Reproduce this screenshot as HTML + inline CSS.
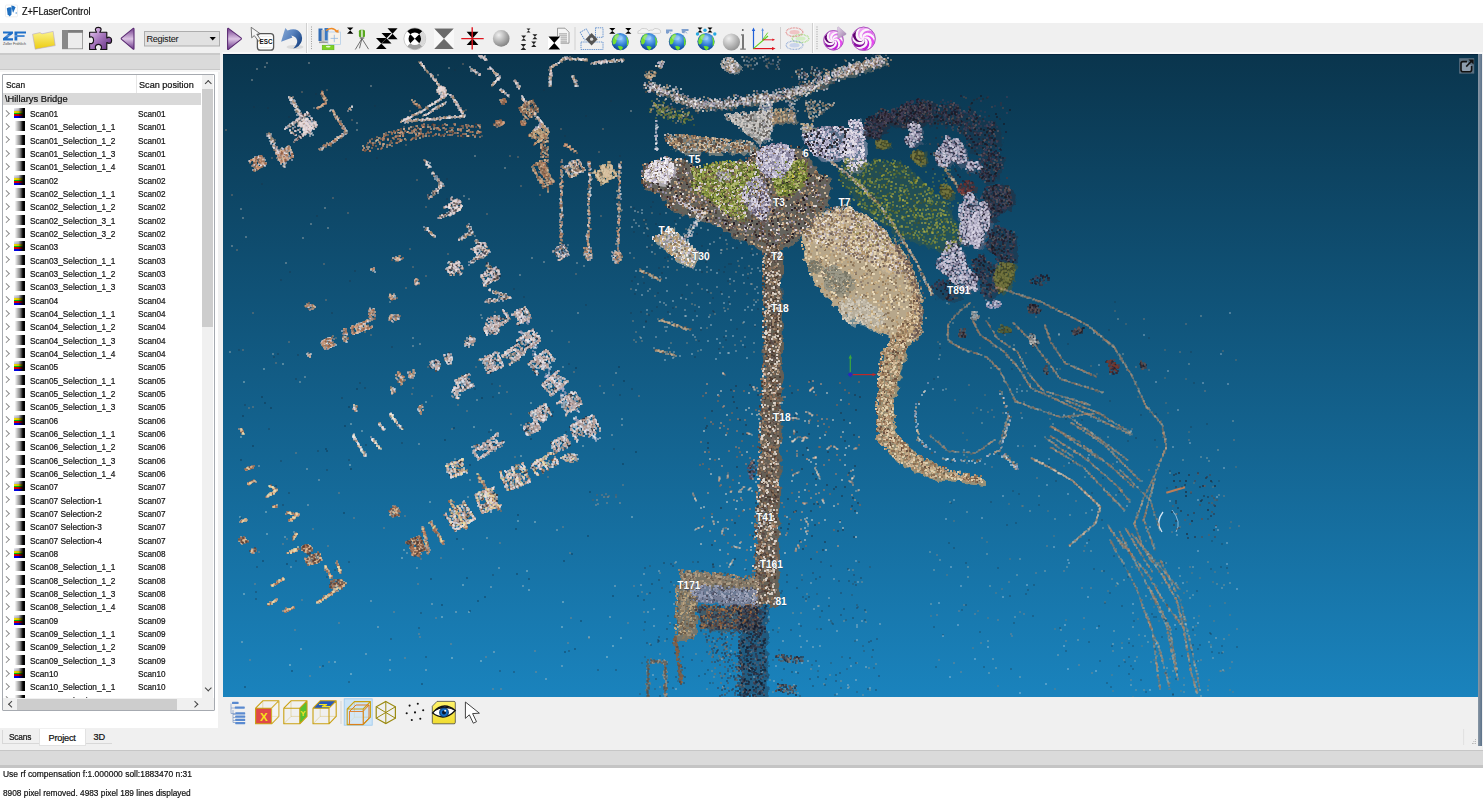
<!DOCTYPE html><html><head><meta charset="utf-8"><style>

*{margin:0;padding:0;box-sizing:border-box}
html,body{width:1483px;height:800px;overflow:hidden;background:#f0f0f0;font-family:"Liberation Sans",sans-serif;color:#000}
#title span,#hdr span,.row span,.hrow span,#status div,.tab{-webkit-text-stroke:0.22px #111}
.a{position:absolute}
#title{left:0;top:0;width:1483px;height:23px;background:#fff}
#title span{position:absolute;left:21.5px;top:6px;font-size:10.4px;transform:scaleX(0.875);transform-origin:0 0;white-space:nowrap;color:#111}
#lbar{left:0;top:53px;width:220px;height:17px;background:#dadada;border-top:2px solid #cacaca;border-bottom:1px solid #c8c8c8}
#lbar2{left:0;top:70px;width:220px;height:2px;background:#f6f6f6}
#panel{left:0;top:72px;width:218px;height:656px;background:#fff}
#list{left:2px;top:74px;width:213px;height:637px;border:1px solid #a6aab0;border-radius:1px;background:#fff;overflow:hidden}
#hdr{left:0;top:0;width:200px;height:18px;background:#fff}
#hdr span{position:absolute;top:3.7px;font-size:9.6px;transform:scaleX(0.93);transform-origin:0 0;white-space:nowrap;color:#111}
#hdr i{position:absolute;left:133px;top:0;width:1px;height:18px;background:#e6e6e6}
.row,.hrow{position:absolute;left:0;width:198px;height:13.333px;font-size:9.6px;line-height:13.3px;white-space:nowrap;color:#111}
.hrow{background:#d9d9d9;height:12.3px;line-height:12.3px}
.hrow span{position:absolute;left:2.4px;top:0.4px;transform:scaleX(0.97);transform-origin:0 0}
.row .c1{position:absolute;left:26.9px;top:0.6px;transform:scaleX(0.865);transform-origin:0 0}
.row .c2{position:absolute;left:135.4px;top:0.6px;transform:scaleX(0.85);transform-origin:0 0}
.chev{position:absolute;left:0.6px;top:4.4px;width:4.6px;height:4.6px;border-right:1px solid #8a8a8a;border-top:1px solid #8a8a8a;transform:rotate(45deg)}
.icS{position:absolute;left:10.6px;top:1.6px;width:11.3px;height:10px;background:linear-gradient(to right,rgba(0,0,0,0) 0%,rgba(0,0,0,0.15) 40%,#000 85%),linear-gradient(#f4f4f4 0%,#c8c8d8 26%,#f0e000 30%,#f0e000 45%,#00d000 47%,#00d000 63%,#e00000 65%,#e00000 78%,#0000f0 80%,#0000f0 100%)}
.icG{position:absolute;left:12.2px;top:1.6px;width:9.5px;height:10px;background:linear-gradient(to right,#f8f8f8,#888 50%,#000 80%,#000)}
#vsb{left:199px;top:0;width:11px;height:623px;background:#f0f0f0}
#vthumb{left:199px;top:14px;width:11px;height:238px;background:#cdcdcd}
#hsb{left:0;top:623px;width:212px;height:12px;background:#f0f0f0}
#hthumb{left:14px;top:624px;width:160px;height:11px;background:#cdcdcd}
.arr{position:absolute;width:4.5px;height:4.5px;border-left:1.3px solid #444;border-top:1.3px solid #444}
#tabs{left:0;top:728px;width:222px;height:22px;background:#f0f0f0}
.tab{position:absolute;font-size:9.2px;letter-spacing:-0.2px;color:#111}
#vp{left:223px;top:54px;width:1255px;height:643px;background:linear-gradient(rgb(10,53,77),rgb(26,131,189));overflow:hidden}
#vsb2{left:1478px;top:54px;width:4px;height:692px;background:linear-gradient(to right,#8a98a6,#5a7088)}
#sbar{left:0;top:750px;width:1483px;height:18px;background:#dadada;border-top:1px solid #c6c6c6;border-bottom:3px solid #c4c4c4}
#sbar2{left:0;top:765px;width:1483px;height:1px;background:#f4f4f4}
#status{left:0;top:768px;width:1483px;height:32px;background:#fff}
#status div{position:absolute;left:2.8px;font-size:9.2px;transform:scaleX(0.93);transform-origin:0 0;color:#111;white-space:nowrap}
#ovl{left:0;top:0;width:1483px;height:800px}

</style></head><body>
<div id="title" class="a"><span>Z+FLaserControl</span></div>
<div id="lbar" class="a"></div><div id="lbar2" class="a"></div>
<div id="panel" class="a"></div>
<div id="list" class="a">
<div id="hdr" class="a"><span style="left:3.3px;transform:scaleX(0.87)">Scan</span><i></i><span style="left:135.6px;transform:scaleX(0.95)">Scan position</span></div>
<div class="hrow" style="top:18.00px"><span>\Hillarys Bridge</span></div>
<div class="row" style="top:31.33px"><i class="chev"></i><i class="icS"></i><span class="c1">Scan01</span><span class="c2">Scan01</span></div>
<div class="row" style="top:44.67px"><i class="chev"></i><i class="icG"></i><span class="c1">Scan01_Selection_1_1</span><span class="c2">Scan01</span></div>
<div class="row" style="top:58.00px"><i class="chev"></i><i class="icG"></i><span class="c1">Scan01_Selection_1_2</span><span class="c2">Scan01</span></div>
<div class="row" style="top:71.33px"><i class="chev"></i><i class="icG"></i><span class="c1">Scan01_Selection_1_3</span><span class="c2">Scan01</span></div>
<div class="row" style="top:84.67px"><i class="chev"></i><i class="icG"></i><span class="c1">Scan01_Selection_1_4</span><span class="c2">Scan01</span></div>
<div class="row" style="top:98.00px"><i class="chev"></i><i class="icS"></i><span class="c1">Scan02</span><span class="c2">Scan02</span></div>
<div class="row" style="top:111.33px"><i class="chev"></i><i class="icG"></i><span class="c1">Scan02_Selection_1_1</span><span class="c2">Scan02</span></div>
<div class="row" style="top:124.66px"><i class="chev"></i><i class="icG"></i><span class="c1">Scan02_Selection_1_2</span><span class="c2">Scan02</span></div>
<div class="row" style="top:138.00px"><i class="chev"></i><i class="icG"></i><span class="c1">Scan02_Selection_3_1</span><span class="c2">Scan02</span></div>
<div class="row" style="top:151.33px"><i class="chev"></i><i class="icG"></i><span class="c1">Scan02_Selection_3_2</span><span class="c2">Scan02</span></div>
<div class="row" style="top:164.66px"><i class="chev"></i><i class="icS"></i><span class="c1">Scan03</span><span class="c2">Scan03</span></div>
<div class="row" style="top:178.00px"><i class="chev"></i><i class="icG"></i><span class="c1">Scan03_Selection_1_1</span><span class="c2">Scan03</span></div>
<div class="row" style="top:191.33px"><i class="chev"></i><i class="icG"></i><span class="c1">Scan03_Selection_1_2</span><span class="c2">Scan03</span></div>
<div class="row" style="top:204.66px"><i class="chev"></i><i class="icG"></i><span class="c1">Scan03_Selection_1_3</span><span class="c2">Scan03</span></div>
<div class="row" style="top:218.00px"><i class="chev"></i><i class="icS"></i><span class="c1">Scan04</span><span class="c2">Scan04</span></div>
<div class="row" style="top:231.33px"><i class="chev"></i><i class="icG"></i><span class="c1">Scan04_Selection_1_1</span><span class="c2">Scan04</span></div>
<div class="row" style="top:244.66px"><i class="chev"></i><i class="icG"></i><span class="c1">Scan04_Selection_1_2</span><span class="c2">Scan04</span></div>
<div class="row" style="top:257.99px"><i class="chev"></i><i class="icG"></i><span class="c1">Scan04_Selection_1_3</span><span class="c2">Scan04</span></div>
<div class="row" style="top:271.33px"><i class="chev"></i><i class="icG"></i><span class="c1">Scan04_Selection_1_4</span><span class="c2">Scan04</span></div>
<div class="row" style="top:284.66px"><i class="chev"></i><i class="icS"></i><span class="c1">Scan05</span><span class="c2">Scan05</span></div>
<div class="row" style="top:297.99px"><i class="chev"></i><i class="icG"></i><span class="c1">Scan05_Selection_1_1</span><span class="c2">Scan05</span></div>
<div class="row" style="top:311.33px"><i class="chev"></i><i class="icG"></i><span class="c1">Scan05_Selection_1_2</span><span class="c2">Scan05</span></div>
<div class="row" style="top:324.66px"><i class="chev"></i><i class="icG"></i><span class="c1">Scan05_Selection_1_3</span><span class="c2">Scan05</span></div>
<div class="row" style="top:337.99px"><i class="chev"></i><i class="icS"></i><span class="c1">Scan06</span><span class="c2">Scan06</span></div>
<div class="row" style="top:351.32px"><i class="chev"></i><i class="icG"></i><span class="c1">Scan06_Selection_1_1</span><span class="c2">Scan06</span></div>
<div class="row" style="top:364.66px"><i class="chev"></i><i class="icG"></i><span class="c1">Scan06_Selection_1_2</span><span class="c2">Scan06</span></div>
<div class="row" style="top:377.99px"><i class="chev"></i><i class="icG"></i><span class="c1">Scan06_Selection_1_3</span><span class="c2">Scan06</span></div>
<div class="row" style="top:391.32px"><i class="chev"></i><i class="icG"></i><span class="c1">Scan06_Selection_1_4</span><span class="c2">Scan06</span></div>
<div class="row" style="top:404.66px"><i class="chev"></i><i class="icS"></i><span class="c1">Scan07</span><span class="c2">Scan07</span></div>
<div class="row" style="top:417.99px"><i class="chev"></i><i class="icG"></i><span class="c1">Scan07 Selection-1</span><span class="c2">Scan07</span></div>
<div class="row" style="top:431.32px"><i class="chev"></i><i class="icG"></i><span class="c1">Scan07 Selection-2</span><span class="c2">Scan07</span></div>
<div class="row" style="top:444.66px"><i class="chev"></i><i class="icG"></i><span class="c1">Scan07 Selection-3</span><span class="c2">Scan07</span></div>
<div class="row" style="top:457.99px"><i class="chev"></i><i class="icG"></i><span class="c1">Scan07 Selection-4</span><span class="c2">Scan07</span></div>
<div class="row" style="top:471.32px"><i class="chev"></i><i class="icS"></i><span class="c1">Scan08</span><span class="c2">Scan08</span></div>
<div class="row" style="top:484.65px"><i class="chev"></i><i class="icG"></i><span class="c1">Scan08_Selection_1_1</span><span class="c2">Scan08</span></div>
<div class="row" style="top:497.99px"><i class="chev"></i><i class="icG"></i><span class="c1">Scan08_Selection_1_2</span><span class="c2">Scan08</span></div>
<div class="row" style="top:511.32px"><i class="chev"></i><i class="icG"></i><span class="c1">Scan08_Selection_1_3</span><span class="c2">Scan08</span></div>
<div class="row" style="top:524.65px"><i class="chev"></i><i class="icG"></i><span class="c1">Scan08_Selection_1_4</span><span class="c2">Scan08</span></div>
<div class="row" style="top:537.99px"><i class="chev"></i><i class="icS"></i><span class="c1">Scan09</span><span class="c2">Scan09</span></div>
<div class="row" style="top:551.32px"><i class="chev"></i><i class="icG"></i><span class="c1">Scan09_Selection_1_1</span><span class="c2">Scan09</span></div>
<div class="row" style="top:564.65px"><i class="chev"></i><i class="icG"></i><span class="c1">Scan09_Selection_1_2</span><span class="c2">Scan09</span></div>
<div class="row" style="top:577.99px"><i class="chev"></i><i class="icG"></i><span class="c1">Scan09_Selection_1_3</span><span class="c2">Scan09</span></div>
<div class="row" style="top:591.32px"><i class="chev"></i><i class="icS"></i><span class="c1">Scan10</span><span class="c2">Scan10</span></div>
<div class="row" style="top:604.65px"><i class="chev"></i><i class="icG"></i><span class="c1">Scan10_Selection_1_1</span><span class="c2">Scan10</span></div>
<div class="row" style="top:617.99px"><i class="chev"></i><i class="icG"></i><span class="c1">Scan10_Selection_1_2</span><span class="c2">Scan10</span></div>
<div id="vsb" class="a"></div><div id="vthumb" class="a"></div>
<i class="arr" style="left:202.6px;top:6px;transform:rotate(45deg)"></i>
<i class="arr" style="left:202.6px;top:611px;transform:rotate(225deg)"></i>
<div id="hsb" class="a"></div><div id="hthumb" class="a"></div>
<i class="arr" style="left:6px;top:627px;transform:rotate(-45deg)"></i>
<i class="arr" style="left:190px;top:627px;transform:rotate(135deg)"></i>
</div>
<div id="tabs" class="a"><div class="a" style="left:2px;top:2px;width:37px;height:14px;border-left:1px solid #d8d8d8;border-bottom:1px solid #d8d8d8"></div><div class="a" style="left:39px;top:1px;width:47px;height:17px;background:#fff;border:1px solid #e2e2e2;border-top:none"></div><div class="a" style="left:86px;top:15px;width:26px;height:1px;background:#d8d8d8"></div><span class="tab" style="left:8.5px;top:3.5px;transform:scaleX(0.9);transform-origin:0 0">Scans</span><span class="tab" style="left:48.5px;top:4.5px">Project</span><span class="tab" style="left:93.5px;top:3.5px">3D</span></div>
<div id="vp" class="a"><svg width="1255" height="643" viewBox="223 54 1255 643"><defs><filter id="rough" x="-15%" y="-15%" width="130%" height="130%">
<feTurbulence type="turbulence" baseFrequency="0.09" numOctaves="2" seed="3" result="t"/>
<feDisplacementMap in="SourceGraphic" in2="t" scale="9" xChannelSelector="R" yChannelSelector="G"/>
</filter></defs><path d="M647.5 85.6L665.1 90.8L682.6 99.6L700.1 104.8L726.4 103.1L752.7 99.6L787.8 94.3L814.1 85.6L840.4 73.3L884.2 59.3" stroke="#8a8070" stroke-width="7" fill="none" opacity="0.45" filter="url(#rough)" stroke-linejoin="round"/>
<polygon points="738.8,65.0 739.3,71.0 732.8,72.6 727.7,71.4 723.4,69.3 720.0,65.0 722.5,60.2 726.9,56.6 732.6,58.0 736.1,61.1" fill="#b0a8a0" opacity="0.6" filter="url(#rough)"/>
<polygon points="724.7,113.6 770.3,110.1 770.3,136.4 756.2,141.7 724.7,115.4" fill="#aca8a2" opacity="0.85" filter="url(#rough)"/>
<polygon points="770.3,108.3 793.0,108.3 794.8,120.6 770.3,124.1" fill="#a08870" opacity="0.6" filter="url(#rough)"/>
<polygon points="665.1,132.9 752.7,141.7 756.2,152.2 682.6,152.2 665.1,141.7" fill="#9c9484" opacity="0.7" filter="url(#rough)"/>
<polygon points="800.1,122.4 814.1,124.1 812.3,131.1 801.8,131.1" fill="#c0b098" opacity="0.6" filter="url(#rough)"/>
<polygon points="641.3,164.4 663.8,156.9 686.3,158.8 691.9,166.3 742.5,160.6 759.4,145.6 798.8,145.6 806.3,156.9 817.5,171.9 830.0,175.0 825.0,205.0 808.1,228.1 789.4,241.3 780.0,246.9 763.1,248.8 735.0,235.6 716.3,226.3 703.1,218.8 686.3,215.0 667.5,207.5 661.9,196.3 641.3,186.9" fill="#7a6a5a" opacity="0.8" filter="url(#rough)"/>
<polygon points="691.9,168.1 720.0,160.6 757.5,162.5 759.4,186.9 750.0,196.3 744.4,218.8 727.5,215.0 712.5,201.9 691.9,188.8" fill="#6e7a3a" opacity="0.85" filter="url(#rough)"/>
<polygon points="774.4,160.6 804.4,158.8 806.3,177.5 791.3,192.5 778.1,196.3 772.5,181.3" fill="#7a8838" opacity="0.8" filter="url(#rough)"/>
<polygon points="674.7,171.0 671.4,177.2 665.2,183.1 655.1,182.3 644.4,179.5 645.3,171.0 649.2,165.1 655.4,160.4 666.4,156.3 672.8,164.0" fill="#c8c4cc" opacity="0.7" filter="url(#rough)"/>
<polygon points="793.4,160.0 789.8,167.8 783.1,178.2 767.3,177.2 758.4,168.8 755.7,160.0 757.2,150.6 768.3,145.0 782.9,142.4 793.9,150.0" fill="#a8a4bc" opacity="0.55" filter="url(#rough)"/>
<polygon points="769.3,198.0 770.2,211.7 762.1,220.4 753.3,214.3 747.4,208.0 742.4,198.0 744.7,185.2 752.5,178.0 761.5,178.4 766.7,188.0" fill="#9894aa" opacity="0.5" filter="url(#rough)"/>
<polygon points="853.1,148.2 845.4,155.7 833.2,159.7 817.0,157.5 805.9,147.0 801.6,134.4 814.9,128.5 827.2,126.4 843.0,126.6 858.9,136.0" fill="#a8a4bc" opacity="0.5" filter="url(#rough)"/>
<polygon points="864.3,146.0 865.9,160.8 858.6,170.2 849.2,171.2 843.0,159.7 840.3,146.0 845.1,134.9 849.1,120.2 859.1,119.2 865.4,131.8" fill="#b0acc4" opacity="0.55" filter="url(#rough)"/>
<polygon points="803.1,231.3 814.4,218.1 827.5,208.8 846.3,205.0 865.0,214.4 883.8,229.4 895.0,244.4 908.1,265.0 915.6,287.5 919.4,310.0 917.5,332.5 910.0,340.0 891.3,336.3 868.8,326.9 846.3,313.8 823.8,295.0 806.9,270.6 801.3,250.0" fill="#c0ac8c" opacity="0.95" filter="url(#rough)"/>
<polygon points="803.1,231.3 814.4,218.1 827.5,208.8 846.3,205.0 865.0,214.4 883.8,229.4 895.0,244.4 911.9,280.0 865.0,261.3 805.0,238.8" fill="#c8b8a0" opacity="0.6" filter="url(#rough)"/>
<polygon points="821.7,267.0 818.9,271.7 815.6,273.7 812.4,273.7 808.7,272.1 808.0,267.0 808.4,261.5 812.3,259.9 815.6,260.6 818.5,262.7" fill="#8a8878" opacity="0.8" filter="url(#rough)"/>
<polygon points="854.2,280.0 849.0,289.4 841.3,294.1 833.2,292.5 825.8,288.7 823.9,280.0 823.1,269.2 832.6,265.4 840.7,268.0 846.3,272.8" fill="#8e8c7c" opacity="0.7" filter="url(#rough)"/>
<polygon points="882.0,324.7 870.0,327.9 858.7,324.5 845.3,322.7 838.4,311.2 839.5,300.1 849.7,295.7 861.6,296.4 871.2,303.9 883.6,312.9" fill="#bab4a4" opacity="0.6" filter="url(#rough)"/>
<polygon points="763.0,245.0 780.0,245.0 781.0,354.0 762.5,354.0" fill="#6e5e50" opacity="0.9" filter="url(#rough)"/>
<polygon points="889.2,124.5 883.1,130.1 880.6,139.3 872.7,138.1 864.4,134.7 863.5,124.5 867.0,116.5 874.1,115.9 881.3,107.5 889.1,113.9" fill="#2c2a38" opacity="0.55" filter="url(#rough)"/>
<polygon points="929.7,113.5 927.7,122.0 915.5,124.6 903.3,127.1 890.2,123.0 880.7,113.5 897.4,107.4 904.7,102.8 917.2,99.0 933.7,102.2" fill="#2c2a38" opacity="0.55" filter="url(#rough)"/>
<polygon points="962.2,114.0 957.5,122.4 949.2,126.0 941.8,123.2 930.2,124.0 925.9,114.0 933.5,106.2 941.9,105.1 950.0,99.8 957.9,105.2" fill="#2c2a38" opacity="0.3" filter="url(#rough)"/>
<polygon points="998.7,131.0 998.5,143.9 984.8,150.0 969.3,152.2 965.3,138.5 957.9,131.0 956.1,117.8 968.2,106.8 982.6,117.6 993.6,121.1" fill="#2c2a38" opacity="0.3" filter="url(#rough)"/>
<polygon points="1002.9,165.0 997.6,171.1 994.7,181.5 983.7,183.6 977.9,173.7 980.0,165.0 977.4,155.9 984.6,149.4 994.6,148.9 1001.6,155.9" fill="#2c2a38" opacity="0.35" filter="url(#rough)"/>
<polygon points="1013.6,201.0 1005.3,211.4 998.3,214.3 990.1,223.7 981.2,215.6 979.9,201.0 984.3,189.5 991.2,183.1 999.0,184.6 1009.9,185.8" fill="#2c2a38" opacity="0.5" filter="url(#rough)"/>
<polygon points="1016.0,245.0 1015.5,261.1 1006.6,268.4 998.4,263.2 994.1,254.4 984.2,245.0 988.0,228.3 998.0,224.9 1005.2,228.9 1013.9,230.8" fill="#2c2a38" opacity="0.45" filter="url(#rough)"/>
<polygon points="998.5,275.5 999.2,289.5 990.9,297.7 981.4,296.1 979.6,282.3 971.2,275.5 971.9,260.5 981.0,252.8 989.1,261.5 997.3,263.5" fill="#2c2a38" opacity="0.4" filter="url(#rough)"/>
<polygon points="959.6,290.0 960.0,297.3 950.7,301.7 941.7,296.8 933.3,295.7 931.4,290.0 931.2,283.3 939.8,279.4 950.2,279.3 952.1,286.5" fill="#2c2a38" opacity="0.3" filter="url(#rough)"/>
<polygon points="921.6,135.0 923.7,138.6 920.4,140.7 917.3,142.1 914.1,147.0 908.4,147.6 905.4,143.0 904.6,138.6 907.7,135.0 910.7,133.7 907.7,129.2 908.3,122.3 914.1,122.1 918.8,124.6 921.8,128.0 921.0,132.4" fill="#6e6a80" opacity="0.4" filter="url(#rough)"/>
<polygon points="965.6,151.8 966.8,162.9 959.0,165.7 952.6,159.3 950.7,162.1 947.0,166.8 941.8,166.5 935.4,162.4 935.2,151.8 941.6,145.5 943.9,140.5 946.4,134.4 950.7,137.5 953.8,139.2 958.7,138.5 962.2,143.9" fill="#6e6a80" opacity="0.4" filter="url(#rough)"/>
<polygon points="981.9,165.9 980.8,169.6 976.2,169.4 974.2,168.8 973.1,171.0 971.2,171.5 968.8,170.9 966.2,169.3 966.6,165.9 967.9,163.5 968.4,160.4 971.0,159.9 973.1,162.5 974.5,162.2 977.0,161.5 979.4,162.9" fill="#6e6a80" opacity="0.4" filter="url(#rough)"/>
<polygon points="977.0,217.5 980.8,225.4 983.6,242.2 977.6,248.3 971.2,243.0 967.5,235.7 967.2,225.6 965.3,222.4 958.5,217.5 958.2,206.7 962.9,200.8 966.1,192.7 971.2,190.0 975.3,197.8 978.3,203.4 979.1,211.0" fill="#6e6a80" opacity="0.4" filter="url(#rough)"/>
<polygon points="967.3,266.8 977.0,276.9 977.1,291.3 964.6,291.1 955.9,285.2 950.6,281.7 948.1,275.8 942.7,273.1 934.8,266.8 938.2,258.2 943.2,252.1 946.7,241.1 955.9,239.8 961.9,250.0 964.9,256.3 965.7,262.1" fill="#6e6a80" opacity="0.4" filter="url(#rough)"/>
<polygon points="989.9,227.5 984.4,234.2 980.9,237.7 979.8,247.4 975.0,249.1 971.1,243.9 964.6,245.5 957.9,239.8 958.6,227.5 961.9,218.1 967.8,215.0 973.2,220.2 975.0,213.2 981.6,199.8 988.3,204.6 990.2,216.6" fill="#6e6a80" opacity="0.4" filter="url(#rough)"/>
<polygon points="891.0,144.4 887.3,147.6 884.0,149.2 880.4,149.1 876.6,147.9 875.5,144.4 875.6,140.3 880.4,139.7 883.8,140.2 887.3,141.2" fill="#505a30" opacity="0.5" filter="url(#rough)"/>
<polygon points="924.9,157.5 925.9,162.9 921.2,165.9 916.5,163.5 913.6,161.0 910.3,157.5 911.9,152.7 916.0,149.8 920.8,150.3 923.7,153.7" fill="#505a30" opacity="0.5" filter="url(#rough)"/>
<polygon points="953.4,191.3 951.3,195.8 948.3,199.4 944.0,198.0 941.4,195.1 940.3,191.3 939.0,185.5 943.8,183.7 947.7,185.2 950.3,187.7" fill="#505a30" opacity="0.5" filter="url(#rough)"/>
<polygon points="1013.9,276.0 1011.0,282.5 1007.1,288.3 999.6,293.3 995.3,284.1 993.3,276.0 996.3,268.9 1000.6,262.8 1007.4,262.7 1015.4,265.4" fill="#505a30" opacity="0.5" filter="url(#rough)"/>
<polygon points="974.8,187.0 972.8,190.8 968.2,192.3 962.6,195.1 957.8,191.7 957.5,187.0 960.4,183.8 963.0,179.7 968.8,180.2 974.1,182.4" fill="#503030" opacity="0.5" filter="url(#rough)"/>
<polygon points="840.0,158.0 900.0,160.0 945.0,200.0 962.0,240.0 945.0,252.0 900.0,235.0 862.0,210.0 838.0,180.0" fill="#4a6038" opacity="0.35" filter="url(#rough)"/>
<polygon points="650.6,237.5 671.3,228.1 697.5,250.6 691.9,267.5 675.0,258.1" fill="#c0b4a0" opacity="0.75" filter="url(#rough)"/>
<polygon points="762.5,354.0 781.0,354.0 778.0,495.0 776.0,604.0 752.0,604.0 756.0,495.0" fill="#6e5e50" opacity="0.9" filter="url(#rough)"/>
<polygon points="679.0,569.4 757.8,577.0 757.8,588.0 680.0,585.0" fill="#85755f" opacity="0.9" filter="url(#rough)"/>
<polygon points="687.0,584.0 755.8,588.0 755.8,604.8 690.0,601.0" fill="#767c92" opacity="0.9" filter="url(#rough)"/>
<polygon points="675.3,585.0 695.0,585.0 695.0,638.0 675.3,638.0" fill="#857560" opacity="0.85" filter="url(#rough)"/>
<polygon points="695.0,604.8 757.8,604.8 757.8,630.0 700.0,628.0" fill="#5a4a40" opacity="0.6" filter="url(#rough)"/>
<polygon points="738.0,604.8 765.6,604.8 765.6,697.0 738.0,697.0" fill="#2a3040" opacity="0.45" filter="url(#rough)"/>
<polygon points="880.0,354.0 876.0,405.0 876.0,440.0 897.0,461.0 932.0,478.0 983.0,483.0 983.0,476.0 949.0,470.0 915.0,453.0 893.0,431.0 893.0,397.0 904.0,354.0 910.0,335.0 919.0,310.0 914.0,290.0 905.0,320.0" fill="#b89a70" opacity="0.8" filter="url(#rough)"/>
<path d="M995.2 286.7L1042.5 302.5L1087.4 325.0L1114.4 347.5L1132.4 376.7L1145.9 406.0L1161.7 424.0L1166.3 446.9L1155.0 475.0L1143.8 497.5L1134.4 523.8L1143.8 550.0L1162.8 576.0L1176.7 600.0L1183.6 627.8L1190.5 669.4L1197.4 693.6" stroke="#c09a78" stroke-width="0.99" fill="none" opacity="0.39" stroke-linejoin="round" stroke-dasharray="9 2 5 3"/>
<path d="M970.5 302.5L954.7 316.0L948.0 325.0L948.0 340.7L963.7 349.7L986.2 356.5L999.7 370.0L1008.7 388.0L1015.5 401.5L1060.5 417.2L1098.8 413.1" stroke="#c09a78" stroke-width="0.99" fill="none" opacity="0.35" stroke-linejoin="round" stroke-dasharray="9 2 5 3"/>
<path d="M972.7 320.5L979.5 334.0L1004.2 352.0L1020.0 370.0L1031.2 388.0L1060.5 401.5L1132.4 435.2" stroke="#c09a78" stroke-width="0.99" fill="none" opacity="0.39" stroke-linejoin="round" stroke-dasharray="9 2 5 3"/>
<path d="M986.2 320.5L997.5 338.5L1017.7 352.0L1029.0 374.5L1042.5 390.2L1090.0 405.0" stroke="#c09a78" stroke-width="0.99" fill="none" opacity="0.32" stroke-linejoin="round" stroke-dasharray="9 2 5 3"/>
<path d="M1013.2 322.7L1033.5 343.0L1047.0 361.0L1060.5 379.0L1103.2 392.5" stroke="#c09a78" stroke-width="0.99" fill="none" opacity="0.39" stroke-linejoin="round" stroke-dasharray="9 2 5 3"/>
<path d="M1044.7 325.0L1051.5 343.0L1065.0 363.2L1096.4 376.7" stroke="#c09a78" stroke-width="0.99" fill="none" opacity="0.39" stroke-linejoin="round" stroke-dasharray="9 2 5 3"/>
<path d="M930.0 435.2L948.0 451.0L975.0 453.2L995.2 439.7" stroke="#c09a78" stroke-width="0.99" fill="none" opacity="0.32" stroke-linejoin="round" stroke-dasharray="9 2 5 3"/>
<path d="M1008.7 415.0L999.7 444.2" stroke="#c09a78" stroke-width="0.99" fill="none" opacity="0.28" stroke-linejoin="round" stroke-dasharray="9 2 5 3"/>
<path d="M1069.5 417.2L1128.0 460.0" stroke="#c09a78" stroke-width="0.99" fill="none" opacity="0.32" stroke-linejoin="round" stroke-dasharray="9 2 5 3"/>
<path d="M1051.5 426.2L1101.0 460.0" stroke="#c09a78" stroke-width="0.99" fill="none" opacity="0.32" stroke-linejoin="round" stroke-dasharray="9 2 5 3"/>
<path d="M1044.7 437.4L1074.0 457.7" stroke="#c09a78" stroke-width="0.99" fill="none" opacity="0.28" stroke-linejoin="round" stroke-dasharray="9 2 5 3"/>
<path d="M1065.0 400.0L1098.8 413.1L1132.5 433.8" stroke="#c09a78" stroke-width="0.99" fill="none" opacity="0.35" stroke-linejoin="round" stroke-dasharray="9 2 5 3"/>
<path d="M1070.6 422.5L1102.5 443.1L1141.9 482.5" stroke="#c09a78" stroke-width="0.99" fill="none" opacity="0.39" stroke-linejoin="round" stroke-dasharray="9 2 5 3"/>
<path d="M1050.0 426.3L1078.0 441.3L1110.0 465.6L1134.4 488.0" stroke="#c09a78" stroke-width="0.99" fill="none" opacity="0.35" stroke-linejoin="round" stroke-dasharray="9 2 5 3"/>
<path d="M1050.0 435.6L1087.5 460.0L1117.5 486.3L1130.6 503.0" stroke="#c09a78" stroke-width="0.99" fill="none" opacity="0.35" stroke-linejoin="round" stroke-dasharray="9 2 5 3"/>
<path d="M1050.0 446.9L1083.8 467.5L1110.0 495.6L1125.0 510.6" stroke="#c09a78" stroke-width="0.99" fill="none" opacity="0.35" stroke-linejoin="round" stroke-dasharray="9 2 5 3"/>
<path d="M1031.0 458.0L1050.0 467.5L1072.5 480.6L1100.6 506.9L1095.0 523.8L1068.8 546.3" stroke="#c8a080" stroke-width="1.44" fill="none" opacity="0.42" stroke-linejoin="round" stroke-dasharray="9 2 5 3"/>
<path d="M1155.0 478.8L1147.5 505.0L1143.8 520.0L1155.0 550.0" stroke="#c09a78" stroke-width="0.99" fill="none" opacity="0.35" stroke-linejoin="round" stroke-dasharray="9 2 5 3"/>
<path d="M1108.0 525.6L1125.0 550.0" stroke="#c09a78" stroke-width="0.99" fill="none" opacity="0.32" stroke-linejoin="round" stroke-dasharray="9 2 5 3"/>
<path d="M1119.0 531.0L1129.0 550.0" stroke="#c09a78" stroke-width="0.99" fill="none" opacity="0.28" stroke-linejoin="round" stroke-dasharray="9 2 5 3"/>
<path d="M1117.8 537.8L1149.0 576.0L1162.8 600.0L1183.6 627.8" stroke="#c09a78" stroke-width="0.99" fill="none" opacity="0.35" stroke-linejoin="round" stroke-dasharray="9 2 5 3"/>
<path d="M1124.7 527.4L1152.4 572.4" stroke="#c09a78" stroke-width="0.99" fill="none" opacity="0.32" stroke-linejoin="round" stroke-dasharray="9 2 5 3"/>
<path d="M1131.6 534.0L1180.0 589.7" stroke="#c09a78" stroke-width="0.99" fill="none" opacity="0.32" stroke-linejoin="round" stroke-dasharray="9 2 5 3"/>
<path d="M1149.0 586.0L1169.7 627.8L1176.7 669.4" stroke="#c09a78" stroke-width="0.99" fill="none" opacity="0.32" stroke-linejoin="round" stroke-dasharray="9 2 5 3"/>
<path d="M1140.0 600.0L1160.0 650.0L1170.0 690.0" stroke="#c09a78" stroke-width="0.99" fill="none" opacity="0.24" stroke-linejoin="round" stroke-dasharray="9 2 5 3"/>
<path d="M1126.0 545.0L1150.0 590.0L1166.0 625.0L1178.0 680.0" stroke="#c09a78" stroke-width="0.99" fill="none" opacity="0.28" stroke-linejoin="round" stroke-dasharray="9 2 5 3"/>
<path d="M1110.0 540.0L1135.0 585.0L1152.0 630.0L1160.0 690.0" stroke="#c09a78" stroke-width="0.99" fill="none" opacity="0.24" stroke-linejoin="round" stroke-dasharray="9 2 5 3"/>
<path d="M1160.0 560.0L1180.0 600.0L1192.0 650.0L1200.0 690.0" stroke="#c09a78" stroke-width="0.99" fill="none" opacity="0.21" stroke-linejoin="round" stroke-dasharray="9 2 5 3"/>
<path d="M1120.0 470.0L1150.0 500.0L1160.0 530.0" stroke="#c09a78" stroke-width="0.99" fill="none" opacity="0.24" stroke-linejoin="round" stroke-dasharray="9 2 5 3"/>
<path d="M1166.3 492.7L1185 487.2" stroke="#d08050" stroke-width="2.2" opacity="0.9"/>
<path d="M1163 512Q1155 522 1162 532" stroke="#e8f4ff" stroke-width="1.3" fill="none" opacity="0.9"/><path d="M1172 510Q1182 522 1176 532" stroke="#c8dcef" stroke-width="1" fill="none" opacity="0.7"/>
<path d="M850.3 374.6V357" stroke="#3ca83c" stroke-width="1.2"/><path d="M848.6 358.5L850.3 354.5L852 358.5Z" fill="#3ca83c"/>
<path d="M850.3 374.6H874" stroke="#c02828" stroke-width="1.2"/><path d="M872.5 372.9L876.5 374.6L872.5 376.3Z" fill="#c02828"/>
<path d="M847.6 374.6L850.3 371.9L853 374.6L850.3 377.3Z" fill="#2828c0"/>
<path d="M479 56h0m87 3h0m-79 1h0m78 0h0m16 0h0m24 0h0m16 0h0m-60 1h0m48 0h0m-13 1h0m3 0h0m1 0h0m13 0h0m-193 1h0m1 0h0m173 0h0m-3 1h0m-37 1h0m-64 3h0m60 0h0m-125 1h0m124 1h0m2 1h0m-1 3h0m-119 1h0m141 1h0m-141 1h0m2 0h0m140 1h0m1 0h0m-140 1h0m2 0h0m61 1h0m-61 1h0m114 0h0m-35 1h0m59 0h0m-137 1h0m57 0h0m-55 1h0m80 2h0m30 0h0m28 0h0m-134 3h0m-1 2h0m11 5h0m55 0h0m14 0h0m-229 1h0m150 0h0m10 1h0m71 2h0m-230 3h0m232 0h0m-234 1h0m141 0h0m-3 1h0m13 0h0m-149 1h0m144 0h0m-1 1h0m1 0h0m21 1h0m-161 2h0m162 0h0m72 0h0m-112 1h0m-124 1h0m38 0h0m127 0h0m72 0h0m1 0h0m-233 1h0m116 0h0m3 0h0m1 0h0m8 0h0m33 0h0m72 0h0m2 0h0m-121 1h0m1 0h0m12 0h0m106 0h0m2 0h0m-124 1h0m14 0h0m-126 1h0m149 0h0m1 0h0m10 0h0m-52 1h0m4 0h0m41 0h0m8 0h0m1 0h0m-54 1h0m34 0h0m4 0h0m92 0h0m-232 1h0m100 0h0m12 0h0m4 0h0m6 0h0m2 0h0m7 0h0m1 0h0m2 0h0m96 0h0m-127 1h0m15 0h0m116 0h0m-240 1h0m39 0h0m2 0h0m70 0h0m1 1h0m-108 1h0m2 0h0m35 0h0m-35 1h0m237 2h0m1 0h0m1 1h0m-236 4h0m-42 3h0m4 2h0m2 3h0m-2 1h0m2 0h0m62 0h0m-62 1h0m0 1h0m61 0h0m1 0h0m-61 3h0m55 0h0m-54 1h0m48 2h0m-46 3h0m1 1h0m1 0h0m0 2h0m3 2h0m-1 1h0m143 3h0m-142 1h0m143 0h0m1 1h0m-141 2h0m143 1h0m192 1h0m-336 1h0m145 0h0m160 0h0m-161 1h0m5 4h0m0 1h0m157 6h0m2 0h0m-153 2h0m123 0h0m27 1h0m-150 1h0m3 0h0m119 0h0m-120 3h0m-1 1h0m121 0h0m-122 1h0m-3 3h0m1 0h0m-2 3h0m-4 3h0m20 1h0m110 3h0m1 2h0m-106 1h0m0 1h0m3 2h0m0 1h0m159 0h0m-159 1h0m-6 4h0m136 0h0m-28 1h0m-119 1h0m2 0h0m116 1h0m-119 2h0m120 1h0m58 1h0m-1 3h0m1 2h0m-192 3h0m43 0h0m149 2h0m-1 1h0m0 1h0m-146 1h0m-6 1h0m-32 1h0m128 1h0m25 0h0m-110 4h0m111 3h0m-109 1h0m80 3h0m59 1h0m-134 1h0m1 0h0m104 1h0m-106 1h0m1 4h0m-2 2h0m136 6h0m-164 3h0m-2 1h0m5 2h0m-1 1h0m37 0h0m-35 1h0m34 0h0m4 3h0m2 1h0m-5 5h0m1 0h0m-2 1h0m-1 1h0m-4 2h0m10 9h0m9 2h0m-2 1h0m6 1h0m-3 1h0m-9 1h0m-9 2h0m8 0h0m-9 1h0m-98 112h0m1 0h0m1 1h0m-13 9h0m20 1h0m-16 3h0m1 1h0m-31 6h0m1 0h0m1 4h0m19 0h0m1 4h0m-17 3h0m1 0h0m20 1h0m-18 2h0" stroke="#c8a898" stroke-width="1.3" stroke-linecap="square"/>
<path d="M479 56h0m1 0h0m2 0h0m399 1h0m-396 1h0m83 0h0m7 1h0m7 0h0m39 0h0m-135 1h0m120 0h0m7 0h0m7 0h0m-21 1h0m5 0h0m15 0h0m254 0h0m-452 1h0m176 0h0m5 0h0m275 0h0m-285 1h0m4 0h0m3 0h0m2 0h0m6 0h0m-185 1h0m134 0h0m315 0h0m-315 1h0m1 0h0m295 0h0m-362 2h0m358 0h0m-357 1h0m60 1h0m261 0h0m-261 1h0m-76 1h0m18 0h0m-16 1h0m74 0h0m283 0h0m24 0h0m-307 1h0m-71 1h0m70 0h0m269 0h0m-14 1h0m36 0h0m-268 3h0m0 1h0m1 0h0m231 0h0m-255 2h0m-55 1h0m55 0h0m26 0h0m-83 3h0m25 0h0m0 2h0m-15 3h0m-58 3h0m6 2h0m57 0h0m281 1h0m-338 1h0m1 0h0m-161 1h0m150 0h0m3 0h0m78 0h0m-230 1h0m148 0h0m353 0h0m-501 1h0m231 0h0m1 0h0m-231 1h0m144 0h0m2 0h0m-146 2h0m234 0h0m-234 1h0m1 0h0m138 0h0m11 0h0m13 0h0m70 0h0m265 1h0m-351 1h0m-14 2h0m-130 1h0m53 0h0m77 0h0m11 0h0m-140 1h0m136 0h0m357 0h0m-367 1h0m10 0h0m99 0h0m-111 1h0m40 0h0m329 0h0m-492 1h0m119 0h0m1 0h0m116 0h0m-235 1h0m2 0h0m117 0h0m8 0h0m-92 1h0m91 0h0m38 0h0m-51 1h0m383 0h0m-495 1h0m111 0h0m45 0h0m2 0h0m336 0h0m-387 1h0m37 0h0m6 0h0m5 0h0m-152 1h0m133 0h0m357 0h0m-373 1h0m1 0h0m2 0h0m2 0h0m4 0h0m5 0h0m107 1h0m115 0h0m-352 1h0m490 0h0m-254 1h0m-198 1h0m-39 1h0m236 0h0m3 0h0m-236 1h0m37 0h0m196 0h0m5 0h0m-8 1h0m3 0h0m6 1h0m1 0h0m2 0h0m-239 1h0m35 0h0m1 0h0m191 0h0m120 4h0m-387 1h0m73 0h0m-75 2h0m389 0h0m1 0h0m-386 8h0m57 0h0m-55 1h0m1 2h0m47 1h0m336 2h0m-378 1h0m-2 1h0m1 2h0m544 0h0m-541 3h0m544 1h0m-544 1h0m546 1h0m3 1h0m-548 1h0m144 0h0m2 0h0m404 0h0m-546 1h0m549 1h0m-247 1h0m31 0h0m1 2h0m1 0h0m219 2h0m1 0h0m-279 2h0m282 0h0m3 2h0m-413 1h0m0 1h0m1 1h0m2 0h0m181 0h0m-183 1h0m416 0h0m-261 1h0m265 1h0m-1 1h0m-415 1h0m181 0h0m236 1h0m4 2h0m-419 1h0m-1 1h0m422 1h0m1 2h0m1 0h0m-429 2h0m-1 1h0m433 2h0m-249 1h0m250 0h0m-278 1h0m84 0h0m-54 1h0m254 1h0m-285 1h0m32 0h0m54 0h0m199 0h0m-196 1h0m2 1h0m196 0h0m-422 1h0m107 1h0m122 0h0m-226 1h0m104 0h0m27 0h0m-131 1h0m228 0h0m194 0h0m-195 1h0m5 1h0m1 1h0m1 0h0m1 0h0m5 1h0m-135 1h0m131 0h0m-238 1h0m2 0h0m243 0h0m-5 1h0m2 0h0m1 0h0m1 1h0m2 1h0m-256 1h0m1 0h0m117 0h0m57 2h0m-181 1h0m2 0h0m120 0h0m141 0h0m-142 2h0m138 0h0m1 1h0m-81 1h0m76 0h0m2 0h0m-2 1h0m-225 1h0m222 1h0m-267 2h0m471 0h0m-468 2h0m43 0h0m1 0h0m-44 1h0m43 0h0m-41 1h0m160 0h0m101 0h0m-217 1h0m-5 1h0m4 0h0m216 0h0m-256 1h0m36 0h0m151 1h0m-156 1h0m3 0h0m120 0h0m99 0h0m5 0h0m-3 1h0m-224 1h0m-2 1h0m-2 1h0m160 0h0m-142 1h0m140 0h0m64 0h0m0 1h0m223 0h0m-425 1h0m0 2h0m139 1h0m59 2h0m4 1h0m229 1h0m-424 1h0m1 2h0m-1 2h0m426 0h0m-434 2h0m109 0h0m-111 1h0m-2 1h0m-1 1h0m-2 2h0m1 0h0m445 0h0m-466 2h0m37 0h0m-19 1h0m-17 1h0m37 1h0m0 1h0m-35 1h0m3 0h0m34 1h0m430 3h0m-426 2h0m3 0h0m-2 2h0m1 1h0m2 0h0m-1 1h0m427 0h0m-430 1h0m-6 1h0m3 0h0m-7 2h0m5 0h0m438 2h0m2 5h0m2 1h0m-437 1h0m1 1h0m1 0h0m9 1h0m-5 1h0m2 1h0m3 2h0m-1 1h0m1 0h0m-10 1h0m-7 1h0m3 0h0m1 0h0m6 0h0m4 0h0m14 9h0m3 0h0m1 4h0m0 2h0m1 1h0m3 0h0m1 2h0m2 2h0m-4 16h0m1 1h0m1 0h0m0 1h0m2 1h0m1 2h0m-1 1h0m7 2h0m-2 1h0m-1 1h0m3 5h0m0 2h0m2 4h0m4 1h0m1 0h0m0 2h0m0 1h0m3 3h0m2 3h0m-1 8h0m2 1h0m5 3h0m1 1h0m1 3h0m3 2h0m5 5h0m-2 4h0m2 1h0m441 2h0m-436 1h0m-4 1h0m6 3h0m1 3h0m1 0h0m1 1h0m2 3h0m-184 3h0m0 4h0m618 0h0m-614 3h0m1 1h0m614 0h0m-429 1h0m1 0h0m-202 1h0m197 0h0m-198 1h0m202 0h0m-182 1h0m182 0h0m-183 1h0m3 0h0m178 0h0m2 0h0m-181 1h0m187 0h0m329 0h0m-534 1h0m1 0h0m18 0h0m-18 1h0m207 2h0m-1 2h0m1 0h0m2 0h0m-238 1h0m236 0h0m1 0h0m4 1h0m-241 1h0m0 1h0m0 1h0m1 0h0m238 0h0m3 0h0m-240 1h0m16 0h0m1 0h0m222 0h0m1 1h0m0 1h0m-239 1h0m19 1h0m546 0h0m1 0h0m-546 3h0m549 1h0m-547 1h0m616 4h0m-40 9h0m60 4h0" stroke="#d0c8d8" stroke-width="1.3" stroke-linecap="square"/>
<path d="M484 57h0m88 1h0m-86 1h0m91 0h0m2 0h0m7 0h0m-11 1h0m11 0h0m25 1h0m1 0h0m1 0h0m-51 1h0m35 0h0m3 1h0m-179 2h0m1 1h0m2 0h0m129 0h0m1 0h0m295 0h0m-424 2h0m399 1h0m10 0h0m7 0h0m-366 1h0m76 0h0m289 0h0m15 0h0m-304 1h0m322 0h0m-379 1h0m345 0h0m3 0h0m-291 1h0m289 0h0m-289 1h0m299 0h0m7 0h0m-426 1h0m49 0h0m16 0h0m78 1h0m225 0h0m-250 1h0m1 0h0m1 0h0m-54 1h0m-62 2h0m140 0h0m1 0h0m-141 1h0m61 0h0m-1 1h0m21 0h0m33 2h0m-31 1h0m-77 3h0m1 0h0m2 3h0m57 0h0m1 0h0m-59 1h0m0 5h0m-153 1h0m2 0h0m231 2h0m142 0h0m-140 2h0m-230 1h0m231 0h0m-231 1h0m139 0h0m10 0h0m12 0h0m71 0h0m128 0h0m-224 1h0m96 0h0m1 0h0m133 0h0m-365 1h0m133 0h0m227 0h0m-361 1h0m131 0h0m1 1h0m10 0h0m228 0h0m-368 1h0m137 0h0m1 0h0m95 0h0m130 0h0m22 0h0m-386 1h0m127 0h0m236 0h0m-360 1h0m121 1h0m263 0h0m-348 1h0m83 0h0m12 0h0m104 0h0m-235 1h0m35 0h0m1 0h0m91 1h0m249 0h0m-252 1h0m38 0h0m-160 1h0m108 0h0m46 0h0m219 0h0m-371 1h0m105 0h0m1 0h0m1 0h0m18 0h0m6 0h0m12 0h0m6 0h0m85 0h0m-102 1h0m-97 1h0m77 0h0m2 0h0m9 0h0m4 0h0m-127 1h0m100 0h0m12 0h0m2 0h0m-16 1h0m-97 1h0m104 0h0m-66 1h0m-33 2h0m235 0h0m-200 1h0m201 0h0m0 1h0m-235 3h0m-38 7h0m0 1h0m58 4h0m-57 3h0m1 0h0m51 0h0m-51 1h0m52 0h0m-52 1h0m49 1h0m497 4h0m-2 1h0m-540 1h0m658 0h0m-113 2h0m-543 1h0m1 0h0m1 0h0m-3 2h0m2 1h0m658 0h0m-657 1h0m308 1h0m244 1h0m-549 1h0m658 0h0m2 2h0m-106 1h0m107 0h0m-385 3h0m-127 2h0m514 1h0m2 0h0m-101 2h0m1 0h0m-259 1h0m358 0h0m3 0h0m0 3h0m1 0h0m-97 1h0m98 0h0m-364 1h0m30 0h0m-180 1h0m418 0h0m98 0h0m-396 2h0m397 0h0m-518 2h0m422 0h0m-423 2h0m427 1h0m1 0h0m-433 1h0m5 0h0m428 0h0m-433 2h0m128 1h0m306 0h0m2 0h0m-436 1h0m187 0h0m250 1h0m-438 1h0m156 1h0m29 0h0m-56 1h0m-108 3h0m136 0h0m-132 1h0m422 3h0m-317 1h0m-106 1h0m2 0h0m1 1h0m161 0h0m-164 1h0m4 0h0m128 0h0m-134 1h0m135 1h0m-142 2h0m2 0h0m-9 2h0m6 0h0m-4 1h0m2 0h0m145 1h0m301 1h0m2 3h0m1 3h0m-426 2h0m94 0h0m28 0h0m-163 1h0m469 0h0m-426 1h0m121 0h0m-118 2h0m424 1h0m-465 2h0m37 0h0m431 0h0m-433 1h0m-33 1h0m31 1h0m437 1h0m-442 2h0m3 0h0m99 0h0m343 1h0m-426 1h0m1 1h0m426 0h0m-1 1h0m-425 1h0m428 1h0m-318 1h0m28 5h0m2 3h0m294 0h0m-429 2h0m-7 1h0m4 0h0m105 0h0m328 0h0m-437 1h0m439 1h0m0 1h0m1 1h0m-467 2h0m1 0h0m37 1h0m2 1h0m-36 1h0m36 1h0m-32 1h0m-1 2h0m2 1h0m1 0h0m184 1h0m-148 2h0m2 2h0m155 0h0m3 0h0m-2 1h0m269 0h0m-266 1h0m273 9h0m-1 1h0m1 1h0m-437 1h0m3 0h0m1 2h0m2 0h0m2 0h0m1 2h0m3 0h0m5 2h0m-20 2h0m7 1h0m-4 1h0m-5 1h0m174 19h0m3 1h0m4 1h0m5 2h0m4 0h0m-22 25h0m1 0h0m1 1h0m2 0h0m3 0h0m0 1h0m7 0h0m1 2h0m2 0h0m-1 1h0m330 37h0m0 2h0m-86 14h0m0 4h0m-526 4h0m2 1h0m1 1h0m2 4h0m-15 1h0m0 1h0m2 5h0m21 0h0m515 4h0m88 3h0m-88 1h0m86 0h0m-650 3h0m563 0h0m-560 1h0m17 0h0m1 1h0m-14 5h0m565 0h0m-547 2h0m-16 2h0m1 4h0m2 0h0m638 1h0m4 0h0m-63 3h0m62 0h0m-45 2h0m15 1h0m36 0h0m0 1h0m4 1h0" stroke="#b89878" stroke-width="1.3" stroke-linecap="square"/>
<path d="M482 56h0m2 2h0m82 0h0m-80 1h0m84 0h0m14 0h0m30 0h0m-52 1h0m60 0h0m-62 1h0m43 0h0m3 0h0m5 0h0m-14 1h0m1 0h0m6 0h0m3 0h0m3 0h0m-54 2h0m-132 3h0m127 0h0m0 1h0m-76 2h0m18 0h0m-20 1h0m-45 1h0m66 0h0m-16 1h0m18 0h0m56 0h0m-121 1h0m120 0h0m-72 1h0m21 1h0m51 0h0m1 0h0m-53 1h0m1 0h0m49 2h0m-115 1h0m63 0h0m-62 1h0m142 0h0m-61 1h0m-79 1h0m57 1h0m-55 1h0m53 0h0m25 0h0m2 2h0m0 1h0m-77 2h0m59 0h0m1 2h0m3 2h0m-54 1h0m58 0h0m-65 2h0m9 0h0m-162 1h0m151 0h0m81 1h0m1 0h0m-234 1h0m148 0h0m-2 1h0m1 0h0m87 0h0m2 0h0m-232 1h0m160 0h0m1 0h0m1 0h0m0 1h0m1 0h0m-12 1h0m84 0h0m-235 1h0m146 0h0m-145 1h0m147 0h0m17 0h0m-25 3h0m1 0h0m96 1h0m-183 1h0m114 1h0m-163 1h0m1 2h0m113 0h0m2 0h0m10 0h0m-12 1h0m49 0h0m1 0h0m-52 1h0m41 0h0m85 0h0m-129 1h0m29 0h0m1 0h0m3 0h0m3 0h0m1 0h0m3 0h0m-42 1h0m20 0h0m2 0h0m-125 1h0m103 0h0m23 0h0m-126 1h0m101 0h0m2 0h0m1 0h0m8 0h0m-109 1h0m235 0h0m-201 2h0m1 0h0m-33 1h0m-3 2h0m5 1h0m33 0h0m-33 4h0m35 0h0m-3 2h0m3 0h0m-75 1h0m-1 1h0m1 0h0m3 5h0m61 0h0m-60 4h0m3 2h0m47 0h0m-48 1h0m0 1h0m1 0h0m1 1h0m0 5h0m1 0h0m4 2h0m143 5h0m136 0h0m-136 2h0m1 0h0m163 0h0m29 0h0m-190 1h0m160 1h0m-159 1h0m190 1h0m1 0h0m-32 7h0m-27 1h0m27 6h0m-150 3h0m3 1h0m119 1h0m58 2h0m0 7h0m-191 1h0m161 0h0m30 1h0m-168 1h0m0 1h0m1 0h0m3 2h0m2 1h0m103 0h0m29 1h0m-133 1h0m162 0h0m-160 2h0m1 2h0m0 1h0m130 5h0m-147 1h0m-4 2h0m2 0h0m179 2h0m-57 2h0m-94 3h0m93 0h0m-93 1h0m2 1h0m0 5h0m91 1h0m-130 1h0m34 0h0m3 0h0m119 0h0m-154 1h0m36 0h0m2 0h0m89 2h0m-96 1h0m124 0h0m31 0h0m-160 1h0m159 0h0m-141 3h0m3 1h0m0 3h0m1 2h0m3 0h0m-1 1h0m1 0h0m0 1h0m135 1h0m-131 1h0m131 0h0m-131 1h0m99 1h0m-107 2h0m2 0h0m-3 1h0m4 1h0m-7 1h0m1 0h0m-5 2h0m-3 1h0m19 1h0m4 8h0m-32 1h0m-1 1h0m39 1h0m0 3h0m0 1h0m-2 2h0m-10 3h0m2 0h0m-4 3h0m5 4h0m4 1h0m1 2h0m2 1h0m6 0h0m-1 1h0m1 0h0m5 1h0m1 1h0m2 0h0m-1 1h0m-20 1h0m2 0h0m11 0h0m-15 1h0m6 0h0m10 0h0m-11 1h0m4 0h0m-11 1h0m-95 113h0m4 4h0m1 1h0m1 1h0m1 2h0m2 2h0m-17 2h0m1 0h0m17 1h0m-29 9h0m3 4h0m1 1h0m0 1h0m-17 1h0m1 2h0m20 2h0m-15 8h0" stroke="#d0b8b8" stroke-width="1.3" stroke-linecap="square"/>
<path d="M481 56h0m4 0h0m-3 1h0m3 2h0m88 0h0m6 0h0m1 0h0m1 0h0m2 0h0m-98 1h0m91 0h0m3 0h0m2 0h0m1 0h0m1 0h0m1 0h0m1 0h0m27 0h0m-5 1h0m-5 1h0m3 0h0m7 0h0m10 0h0m-23 1h0m2 0h0m1 0h0m-46 1h0m-133 2h0m47 1h0m2 2h0m16 0h0m63 1h0m-75 2h0m4 2h0m18 0h0m-2 2h0m76 1h0m-139 1h0m65 0h0m-64 2h0m2 0h0m0 1h0m60 0h0m55 0h0m-35 2h0m34 0h0m1 0h0m-114 1h0m1 0h0m138 0h0m-84 1h0m84 1h0m-135 1h0m78 0h0m0 1h0m-76 2h0m0 1h0m2 0h0m58 1h0m-59 1h0m1 1h0m1 1h0m4 0h0m-161 2h0m153 0h0m-3 3h0m-3 2h0m19 0h0m1 0h0m-21 1h0m-141 1h0m2 0h0m139 0h0m23 0h0m-164 1h0m162 0h0m-160 1h0m1 0h0m132 0h0m1 0h0m-135 1h0m140 1h0m25 1h0m71 0h0m-232 1h0m125 0h0m9 1h0m99 0h0m-113 1h0m116 1h0m-235 1h0m116 0h0m9 1h0m-124 1h0m160 0h0m3 0h0m71 0h0m-95 1h0m11 0h0m-149 1h0m1 0h0m33 0h0m74 0h0m37 0h0m92 0h0m-237 1h0m106 0h0m2 0h0m6 0h0m15 0h0m-27 1h0m2 0h0m8 0h0m125 0h0m-132 1h0m15 0h0m-117 1h0m103 0h0m-3 1h0m-100 1h0m237 0h0m1 1h0m2 1h0m-238 1h0m38 1h0m-38 1h0m5 4h0m-41 1h0m40 0h0m-42 1h0m72 1h0m-1 1h0m-71 1h0m66 2h0m-64 2h0m1 0h0m-1 1h0m58 2h0m-56 2h0m1 1h0m49 0h0m-45 4h0m3 5h0m-1 3h0m146 2h0m2 3h0m192 0h0m-190 1h0m3 7h0m1 1h0m155 0h0m-155 2h0m185 2h0m-29 2h0m-151 2h0m2 3h0m149 4h0m-152 2h0m123 0h0m-129 2h0m3 0h0m155 1h0m-28 1h0m29 0h0m-160 1h0m23 6h0m107 0h0m-104 1h0m0 4h0m162 1h0m-162 1h0m-3 1h0m5 0h0m-4 1h0m-5 1h0m110 2h0m-115 1h0m144 8h0m30 0h0m-57 1h0m26 1h0m-120 1h0m120 0h0m-120 1h0m3 2h0m-4 5h0m3 0h0m91 0h0m-129 1h0m1 0h0m33 0h0m-1 3h0m11 2h0m1 6h0m84 0h0m56 8h0m-131 1h0m103 0h0m-109 2h0m-9 4h0m3 1h0m17 5h0m-35 2h0m37 0h0m-40 2h0m8 3h0m34 0h0m0 1h0m0 6h0m-7 1h0m3 0h0m-4 1h0m-3 2h0m9 7h0m2 0h0m4 1h0m2 0h0m5 1h0m-3 3h0m3 0h0m2 0h0m-7 1h0m0 1h0m-4 1h0m-5 1h0m1 0h0m2 1h0m-102 113h0m-1 1h0m1 2h0m-1 1h0m2 0h0m0 1h0m2 0h0m1 3h0m-18 1h0m1 0h0m20 2h0m-17 1h0m0 1h0m2 1h0m17 0h0m-49 8h0m1 1h0m1 0h0m-1 1h0m1 0h0m1 0h0m16 0h0m1 2h0m1 0h0m-16 2h0m1 1h0m18 0h0m-17 3h0m2 3h0m0 2h0m1 0h0m1 3h0m1 0h0" stroke="#f0e8e8" stroke-width="1.3" stroke-linecap="square"/>
<path d="M478 54h0m395 0h0m-392 2h0m-1 1h0m87 0h0m-84 1h0m1 1h0m2 0h0m77 0h0m3 0h0m1 0h0m19 0h0m-4 1h0m5 0h0m35 0h0m-7 1h0m8 0h0m-63 1h0m41 0h0m5 0h0m5 0h0m-52 1h0m35 0h0m-172 1h0m172 0h0m2 0h0m275 0h0m-447 2h0m128 0h0m-128 1h0m420 0h0m6 0h0m-360 1h0m350 0h0m-350 1h0m1 0h0m1 0h0m352 0h0m-419 1h0m2 1h0m47 0h0m375 0h0m-10 1h0m10 0h0m-354 1h0m307 0h0m33 0h0m-285 1h0m249 0h0m48 0h0m-415 1h0m47 0h0m1 0h0m17 0h0m-64 1h0m394 0h0m-276 2h0m265 0h0m-319 1h0m1 1h0m-61 2h0m57 0h0m57 0h0m-34 1h0m302 0h0m-326 1h0m1 0h0m57 0h0m-58 1h0m57 0h0m-109 1h0m109 0h0m25 0h0m3 0h0m-77 3h0m-58 1h0m2 0h0m-2 2h0m59 0h0m1 0h0m2 1h0m1 0h0m-59 1h0m341 0h0m-280 2h0m14 0h0m267 0h0m-500 1h0m154 0h0m-154 1h0m153 0h0m1 0h0m80 0h0m-83 1h0m82 0h0m1 1h0m-228 1h0m143 0h0m16 0h0m-161 1h0m142 0h0m11 0h0m9 0h0m2 0h0m68 0h0m1 0h0m-235 1h0m154 0h0m-15 2h0m27 0h0m-163 1h0m136 0h0m10 0h0m-88 1h0m108 1h0m334 1h0m-361 1h0m356 0h0m-459 1h0m92 0h0m0 1h0m-124 1h0m131 0h0m33 0h0m-34 1h0m107 0h0m-109 1h0m-124 1h0m35 1h0m71 0h0m3 0h0m33 0h0m3 0h0m7 0h0m3 0h0m1 0h0m6 0h0m73 0h0m1 0h0m-129 1h0m34 0h0m-105 1h0m68 0h0m1 0h0m20 0h0m1 0h0m6 0h0m7 0h0m97 0h0m1 0h0m-201 1h0m71 0h0m2 0h0m10 0h0m14 0h0m105 0h0m249 0h0m-387 1h0m11 0h0m127 0h0m116 0h0m-114 2h0m-236 1h0m1 1h0m235 0h0m115 0h0m-314 1h0m199 0h0m-236 2h0m230 0h0m9 0h0m-7 1h0m9 0h0m109 3h0m-310 2h0m-76 4h0m386 0h0m-319 2h0m-67 1h0m62 1h0m-57 1h0m58 0h0m324 0h0m-383 1h0m382 0h0m-382 4h0m381 1h0m1 0h0m-380 1h0m46 0h0m335 0h0m-380 1h0m542 2h0m1 1h0m1 0h0m-541 2h0m546 1h0m-1 1h0m-546 1h0m4 1h0m546 0h0m-545 3h0m306 0h0m-306 1h0m142 1h0m408 0h0m-549 2h0m144 0h0m2 0h0m160 2h0m249 0h0m2 0h0m-252 1h0m-158 4h0m158 1h0m29 1h0m-57 1h0m287 0h0m-414 2h0m184 0h0m-181 2h0m1 0h0m150 0h0m-149 1h0m1 2h0m149 0h0m267 0h0m2 1h0m-420 1h0m2 0h0m179 1h0m-179 1h0m-2 1h0m426 1h0m-428 1h0m124 0h0m304 0h0m-303 1h0m305 0h0m-247 2h0m1 0h0m-59 1h0m307 0h0m-279 1h0m-160 1h0m1 0h0m243 0h0m2 0h0m-87 2h0m-28 1h0m115 0h0m-115 1h0m117 0h0m1 0h0m1 1h0m0 2h0m2 0h0m-94 1h0m97 0h0m3 1h0m-229 1h0m227 0h0m3 0h0m1 0h0m-229 1h0m421 0h0m-422 1h0m232 0h0m0 1h0m-130 1h0m27 0h0m107 1h0m-249 1h0m3 0h0m3 0h0m248 0h0m183 1h0m-435 1h0m254 0h0m-259 1h0m-1 1h0m-2 1h0m449 1h0m-189 1h0m189 0h0m-271 1h0m0 1h0m271 0h0m-195 1h0m197 1h0m-330 1h0m131 2h0m203 1h0m-469 2h0m1 0h0m41 1h0m93 0h0m-133 1h0m133 0h0m-132 1h0m131 0h0m338 1h0m-467 1h0m253 1h0m216 0h0m-466 1h0m31 0h0m123 0h0m99 0h0m-226 1h0m156 1h0m67 0h0m-226 1h0m444 2h0m-222 3h0m225 0h0m-426 1h0m1 0h0m426 1h0m-426 1h0m2 0h0m2 1h0m76 0h0m123 0h0m-202 1h0m79 2h0m57 2h0m-136 1h0m-1 1h0m80 0h0m352 1h0m-295 1h0m296 1h0m1 0h0m-467 4h0m4 0h0m35 2h0m-30 3h0m31 0h0m431 0h0m-429 1h0m2 0h0m-35 2h0m35 0h0m2 1h0m2 3h0m428 2h0m-430 1h0m431 0h0m-433 2h0m3 0h0m429 0h0m-434 1h0m-2 2h0m-4 1h0m444 2h0m1 2h0m-434 4h0m4 5h0m5 1h0m7 0h0m-22 1h0m6 0h0m11 0h0m-13 1h0m4 0h0m20 11h0m2 1h0m3 1h0m-1 2h0m1 0h0m3 5h0m3 1h0m1 0h0m0 1h0m-10 10h0m1 0h0m2 1h0m1 0h0m1 2h0m1 1h0m-2 1h0m2 1h0m2 1h0m3 2h0m1 5h0m2 0h0m2 11h0m2 0h0m0 1h0m1 2h0m1 0h0m2 0h0m1 2h0m2 0h0m-1 2h0m4 1h0m0 2h0m1 0h0m2 2h0m2 11h0m0 1h0m2 0h0m0 1h0m4 1h0m-2 3h0m3 1h0m1 0h0m1 1h0m-2 2h0m4 0h0m437 4h0m-438 1h0m1 0h0m359 0h0m-361 1h0m4 1h0m4 6h0m2 0h0m-3 1h0m3 0h0m-1 2h0m3 1h0m3 1h0m1 1h0m-187 5h0m526 0h0m-1 2h0m94 0h0m-433 2h0m4 4h0m336 0h0m-335 1h0m4 2h0m-205 1h0m1 0h0m203 1h0m423 1h0m-421 2h0m1 0h0m-1 1h0m331 0h0m89 0h0m-415 3h0m415 1h0m-413 1h0m-240 1h0m241 0h0m1 1h0m5 0h0m404 0h0m-649 1h0m243 0h0m-226 1h0m1 0h0m-17 1h0m2 2h0m0 1h0m1 2h0m19 0h0m552 3h0m-569 1h0m5 4h0m628 0h0m-7 2h0m-23 5h0m8 0h0m8 0h0m35 5h0m2 0h0" stroke="#e8e4ec" stroke-width="1.3" stroke-linecap="square"/>
<path d="M481 56h0m89 1h0m-3 1h0m1 0h0m-83 1h0m77 0h0m7 0h0m2 0h0m13 1h0m33 0h0m2 0h0m-58 1h0m39 0h0m4 0h0m5 0h0m13 0h0m-24 1h0m1 0h0m6 0h0m-1 1h0m-182 2h0m132 1h0m-130 1h0m126 0h0m-61 2h0m62 0h0m-76 1h0m18 0h0m-19 1h0m76 1h0m1 0h0m-120 2h0m49 0h0m16 0h0m55 1h0m-119 1h0m66 2h0m-64 1h0m140 0h0m-59 1h0m36 0h0m-35 1h0m58 0h0m2 0h0m-139 1h0m59 0h0m-59 1h0m58 0h0m21 0h0m1 0h0m59 1h0m1 0h0m-57 3h0m-79 1h0m1 1h0m2 1h0m56 0h0m-56 1h0m59 0h0m-1 1h0m-49 4h0m-161 2h0m150 0h0m-1 1h0m14 2h0m-18 1h0m18 0h0m70 0h0m-230 1h0m137 0h0m25 0h0m69 0h0m1 0h0m-84 1h0m84 0h0m-95 1h0m97 0h0m-71 1h0m1 0h0m-31 1h0m11 0h0m22 1h0m-111 1h0m110 0h0m1 0h0m69 0h0m1 0h0m-70 1h0m-31 1h0m-9 1h0m10 0h0m32 0h0m-162 2h0m114 0h0m-2 1h0m1 0h0m11 0h0m38 1h0m-163 1h0m137 1h0m5 0h0m3 0h0m2 0h0m13 0h0m-157 1h0m128 0h0m1 0h0m1 0h0m-24 1h0m2 0h0m19 0h0m6 0h0m-29 1h0m6 0h0m8 0h0m118 0h0m-200 1h0m67 0h0m137 1h0m-203 1h0m4 2h0m-38 1h0m1 0h0m0 2h0m37 3h0m-75 2h0m73 1h0m2 0h0m-75 1h0m68 3h0m-64 3h0m1 4h0m3 1h0m-2 3h0m3 3h0m2 1h0m1 4h0m144 3h0m2 1h0m162 0h0m31 3h0m-337 1h0m307 1h0m-27 1h0m27 0h0m30 3h0m-59 3h0m-123 5h0m1 0h0m0 1h0m0 1h0m2 1h0m0 2h0m2 2h0m1 0h0m175 1h0m-180 1h0m123 0h0m-123 1h0m122 0h0m-126 2h0m1 0h0m-2 1h0m185 0h0m-185 1h0m-6 2h0m133 0h0m0 1h0m-130 1h0m1 0h0m20 1h0m136 0h0m-159 1h0m25 2h0m0 1h0m4 2h0m0 4h0m-5 3h0m1 0h0m-4 1h0m3 0h0m137 2h0m-145 1h0m-2 1h0m175 1h0m-178 1h0m149 0h0m30 3h0m-1 2h0m-57 2h0m-94 1h0m2 2h0m1 1h0m-41 3h0m1 0h0m1 0h0m188 2h0m-57 1h0m-127 1h0m29 0h0m98 0h0m-96 1h0m95 2h0m-86 2h0m2 2h0m3 1h0m0 1h0m2 3h0m136 1h0m-134 1h0m2 0h0m-3 5h0m1 0h0m-2 2h0m-6 2h0m-27 3h0m23 0h0m1 0h0m0 1h0m-20 3h0m1 2h0m38 1h0m0 2h0m-32 1h0m34 0h0m-32 1h0m32 1h0m-34 1h0m36 4h0m2 0h0m-1 1h0m-5 1h0m-6 1h0m-3 1h0m1 2h0m0 1h0m6 5h0m8 1h0m-3 1h0m4 0h0m0 2h0m3 0h0m8 2h0m-6 1h0m-18 3h0m2 0h0m1 0h0m3 0h0m2 0h0m0 1h0m-5 1h0m-98 111h0m1 2h0m3 3h0m1 2h0m1 1h0m2 3h0m-16 5h0m-28 9h0m1 2h0m1 0h0m20 3h0m-18 1h0m19 1h0m-19 1h0m20 0h0m-19 1h0m5 4h0m-1 2h0" stroke="#b89890" stroke-width="1.3" stroke-linecap="square"/>
<path d="M484 57h0m81 0h0m-84 1h0m97 0h0m-6 1h0m-87 1h0m77 0h0m8 0h0m15 0h0m29 0h0m3 0h0m-15 1h0m-3 1h0m5 0h0m-184 1h0m1 0h0m1 1h0m172 0h0m-172 1h0m132 0h0m-130 2h0m128 0h0m-81 2h0m22 2h0m58 0h0m-76 1h0m19 0h0m1 1h0m56 0h0m-121 1h0m65 0h0m2 0h0m0 1h0m1 0h0m52 0h0m2 0h0m-119 4h0m65 0h0m52 0h0m-51 1h0m15 1h0m4 2h0m-80 2h0m113 0h0m-112 1h0m78 1h0m2 0h0m0 1h0m-77 1h0m1 0h0m76 0h0m-15 2h0m-1 1h0m1 0h0m-54 3h0m-9 2h0m-1 2h0m13 0h0m-159 1h0m147 0h0m13 0h0m1 0h0m69 0h0m-233 1h0m2 0h0m163 0h0m68 0h0m-89 1h0m91 1h0m1 1h0m-69 1h0m-163 1h0m57 0h0m76 0h0m12 0h0m18 0h0m-162 1h0m233 0h0m-71 1h0m-160 1h0m52 0h0m83 0h0m1 0h0m-101 1h0m18 0h0m73 0h0m35 0h0m1 0h0m71 0h0m-70 1h0m1 0h0m-31 1h0m32 1h0m-35 1h0m-129 1h0m163 0h0m3 0h0m-164 1h0m154 0h0m10 0h0m-9 1h0m3 0h0m-51 1h0m33 0h0m8 0h0m-149 1h0m38 0h0m66 0h0m1 0h0m2 0h0m16 0h0m7 0h0m109 0h0m-237 1h0m112 0h0m2 0h0m6 0h0m3 0h0m3 0h0m4 0h0m8 0h0m100 0h0m-137 1h0m-99 1h0m97 0h0m5 0h0m136 1h0m0 1h0m1 0h0m-237 3h0m1 1h0m1 0h0m37 2h0m1 0h0m201 0h0m1 0h0m-238 4h0m-42 2h0m1 0h0m41 0h0m30 0h0m-1 1h0m-1 1h0m-3 1h0m-63 2h0m1 0h0m60 0h0m2 0h0m-56 11h0m-1 1h0m0 2h0m148 6h0m-142 1h0m143 0h0m0 1h0m192 3h0m-58 6h0m-129 1h0m189 0h0m-2 1h0m-185 1h0m155 0h0m-152 3h0m153 2h0m30 1h0m-58 1h0m-121 1h0m121 3h0m-123 1h0m1 1h0m180 0h0m-184 1h0m1 0h0m1 1h0m14 7h0m-23 1h0m24 2h0m4 2h0m160 2h0m-160 1h0m3 4h0m102 0h0m-105 2h0m-8 1h0m-2 3h0m-5 1h0m120 0h0m-1 1h0m58 2h0m-59 3h0m58 0h0m1 0h0m-30 4h0m-161 2h0m0 2h0m3 4h0m39 1h0m-8 2h0m0 2h0m126 2h0m1 6h0m-106 3h0m2 4h0m133 0h0m-138 1h0m3 0h0m1 0h0m1 0h0m-11 4h0m5 0h0m138 2h0m-145 1h0m-1 1h0m-20 1h0m37 1h0m-36 2h0m1 0h0m1 0h0m35 2h0m5 1h0m-2 1h0m-2 1h0m4 0h0m0 8h0m-9 3h0m4 0h0m-5 2h0m2 1h0m3 4h0m1 0h0m10 4h0m1 1h0m4 0h0m-3 3h0m1 0h0m6 0h0m-19 1h0m-3 1h0m9 0h0m1 0h0m-8 1h0m-3 1h0m4 0h0m-99 112h0m0 1h0m1 0h0m3 4h0m0 2h0m2 1h0m0 1h0m-18 1h0m0 1h0m2 0h0m19 1h0m-16 4h0m-27 12h0m19 1h0m1 3h0m-17 1h0m1 0h0m19 1h0m-16 5h0" stroke="#e8d8d8" stroke-width="1.3" stroke-linecap="square"/>
<path d="M563 58h0m2 0h0m8 1h0m2 0h0m8 0h0m-22 1h0m1 0h0m19 0h0m36 0h0m2 1h0m3 0h0m-27 1h0m12 0h0m3 0h0m5 0h0m-57 1h0m1 0h0m290 0h0m-248 1h0m249 0h0m27 0h0m-323 1h0m1 0h0m-132 1h0m433 0h0m3 0h0m-307 1h0m1 0h0m-129 1h0m431 0h0m-53 1h0m61 0h0m-390 1h0m342 0h0m36 0h0m-380 1h0m23 1h0m302 0h0m-320 1h0m18 0h0m320 0h0m-317 1h0m322 1h0m-388 1h0m142 0h0m235 0h0m-310 2h0m2 0h0m50 0h0m-52 1h0m1 0h0m75 1h0m-78 1h0m-1 1h0m54 0h0m26 0h0m-138 1h0m57 0h0m1 0h0m21 0h0m0 1h0m4 2h0m56 0h0m-134 3h0m1 1h0m57 0h0m4 2h0m-56 2h0m59 1h0m-61 1h0m343 0h0m-346 1h0m80 0h0m-232 1h0m233 1h0m-234 1h0m1 0h0m1 0h0m163 0h0m-19 2h0m-4 2h0m1 0h0m9 0h0m1 0h0m349 0h0m-360 1h0m11 0h0m-148 1h0m135 0h0m-134 1h0m56 0h0m84 0h0m357 0h0m-443 1h0m-53 1h0m128 0h0m-130 1h0m36 0h0m94 0h0m7 0h0m29 0h0m-163 1h0m2 0h0m-1 1h0m122 0h0m8 1h0m34 0h0m71 0h0m260 0h0m-378 1h0m118 0h0m1 0h0m-238 1h0m38 0h0m89 0h0m365 0h0m-334 1h0m5 0h0m2 0h0m-161 1h0m148 0h0m15 0h0m-37 1h0m20 0h0m2 0h0m1 0h0m-20 1h0m7 0h0m-33 1h0m15 0h0m-17 1h0m8 0h0m131 0h0m1 1h0m-201 3h0m200 1h0m-1 1h0m1 0h0m-4 1h0m119 0h0m-349 1h0m228 0h0m2 0h0m-190 2h0m-38 2h0m34 1h0m-30 1h0m29 1h0m1 0h0m314 0h0m-320 1h0m-67 1h0m68 0h0m1 0h0m-3 1h0m320 0h0m-319 1h0m-4 1h0m-1 1h0m324 2h0m0 5h0m1 0h0m162 4h0m7 4h0m6 3h0m-548 2h0m142 0h0m-145 1h0m149 0h0m158 0h0m-161 1h0m162 0h0m243 0h0m-405 1h0m408 0h0m-551 1h0m145 0h0m190 1h0m218 0h0m-218 4h0m223 1h0m4 0h0m-257 2h0m1 1h0m258 0h0m-258 1h0m260 0h0m-413 4h0m154 0h0m262 0h0m2 3h0m3 0h0m-415 1h0m117 0h0m300 1h0m-419 1h0m418 0h0m-418 1h0m421 0h0m-423 1h0m152 0h0m271 0h0m-424 2h0m152 1h0m30 0h0m245 0h0m-276 1h0m1 0h0m275 0h0m-427 1h0m151 2h0m86 2h0m2 1h0m-117 1h0m29 0h0m90 0h0m3 1h0m-2 1h0m4 0h0m-229 1h0m228 0h0m1 1h0m-64 2h0m67 0h0m1 1h0m2 0h0m190 0h0m-420 1h0m-3 1h0m105 0h0m-104 1h0m232 0h0m4 0h0m189 0h0m-191 1h0m5 0h0m-109 1h0m296 0h0m-265 1h0m81 0h0m-245 1h0m238 0h0m2 0h0m-107 1h0m-146 1h0m3 0h0m117 0h0m137 0h0m-253 1h0m172 0h0m81 0h0m-1 1h0m-108 1h0m299 0h0m-191 1h0m-109 1h0m107 1h0m-107 1h0m-1 3h0m-120 1h0m93 0h0m-90 1h0m423 0h0m-466 1h0m265 0h0m203 0h0m-471 2h0m136 0h0m128 0h0m-260 1h0m262 0h0m-261 1h0m42 0h0m116 0h0m101 0h0m-217 1h0m427 0h0m-467 1h0m3 2h0m30 0h0m-1 1h0m123 0h0m95 0h0m-95 2h0m1 1h0m100 0h0m-210 1h0m206 1h0m-208 1h0m3 0h0m1 0h0m204 0h0m-205 1h0m109 0h0m96 0h0m223 2h0m-427 1h0m109 0h0m90 0h0m2 1h0m-198 1h0m1 0h0m424 0h0m-423 1h0m426 2h0m-426 1h0m426 0h0m-426 1h0m0 2h0m-6 1h0m-5 1h0m4 1h0m437 0h0m-440 2h0m-26 1h0m24 0h0m444 0h0m-466 2h0m0 1h0m0 1h0m36 0h0m431 0h0m-465 2h0m2 0h0m6 6h0m460 1h0m-431 7h0m435 0h0m1 0h0m-440 2h0m440 0h0m-442 1h0m445 2h0m-439 2h0m439 0h0m-439 1h0m440 1h0m1 0h0m-436 1h0m436 0h0m-438 1h0m1 0h0m2 0h0m5 0h0m430 0h0m-429 1h0m3 3h0m-5 1h0m1 0h0m6 0h0m3 0h0m-16 1h0m-3 2h0m26 9h0m4 3h0m-3 1h0m1 2h0m7 4h0m-6 12h0m1 0h0m4 1h0m1 5h0m2 0h0m2 6h0m1 0h0m4 0h0m-3 2h0m3 9h0m2 2h0m1 2h0m2 0h0m0 1h0m4 2h0m3 4h0m2 9h0m-2 1h0m0 1h0m3 1h0m3 3h0m2 0h0m1 2h0m3 1h0m-1 1h0m3 1h0m2 2h0m362 3h0m-359 7h0m437 0h0m-438 1h0m1 0h0m3 3h0m1 1h0m434 0h0m-431 1h0m-2 1h0m2 0h0m0 2h0m433 6h0m-615 1h0m2 1h0m183 2h0m340 0h0m-523 1h0m183 0h0m-2 1h0m1 0h0m341 1h0m-335 1h0m-186 1h0m185 2h0m338 0h0m-336 1h0m427 0h0m-627 2h0m201 0h0m-200 2h0m202 1h0m3 0h0m1 1h0m1 4h0m-237 1h0m1 0h0m241 1h0m-222 2h0m546 0h0m-547 1h0m1 1h0m630 0h0m0 1h0m-628 1h0m-17 1h0m1 1h0m567 0h0m-547 2h0m-18 2h0m1 0h0m-1 1h0m638 1h0m-635 4h0m1 1h0m1 0h0m622 0h0m19 2h0m-61 2h0m62 0h0m3 5h0m3 0h0" stroke="#f4f0f0" stroke-width="1.3" stroke-linecap="square"/>
<path d="M877 54h0m-314 5h0m1 0h0m7 0h0m6 0h0m10 0h0m36 0h0m-60 1h0m9 0h0m11 0h0m35 0h0m2 0h0m4 0h0m-63 1h0m24 0h0m2 0h0m22 0h0m2 0h0m1 0h0m253 0h0m-446 1h0m198 0h0m-24 1h0m3 0h0m267 0h0m6 0h0m8 0h0m-456 1h0m132 1h0m2 0h0m2 0h0m314 0h0m-318 2h0m-2 1h0m-79 1h0m79 0h0m-125 1h0m401 0h0m9 0h0m-409 1h0m0 1h0m67 0h0m-66 1h0m66 0h0m1 0h0m-19 1h0m21 0h0m300 0h0m10 1h0m13 0h0m8 0h0m15 0h0m-410 1h0m118 1h0m23 1h0m-23 1h0m22 0h0m255 0h0m-391 3h0m56 1h0m1 0h0m81 1h0m-137 1h0m55 0h0m-53 1h0m52 0h0m59 0h0m-32 1h0m-77 2h0m60 2h0m-59 1h0m2 1h0m60 0h0m-215 4h0m162 0h0m1 1h0m1 0h0m-13 1h0m81 0h0m-229 2h0m0 1h0m145 0h0m17 0h0m70 0h0m-231 1h0m150 0h0m83 2h0m-232 1h0m144 0h0m3 0h0m214 0h0m-358 1h0m231 0h0m134 0h0m-313 1h0m76 0h0m1 0h0m12 0h0m92 0h0m-182 1h0m1 0h0m78 0h0m225 0h0m29 0h0m-31 1h0m8 0h0m-362 1h0m136 0h0m31 0h0m-166 1h0m165 0h0m209 0h0m17 0h0m-156 2h0m-120 1h0m2 0h0m2 0h0m46 0h0m219 0h0m-380 1h0m234 0h0m-92 1h0m2 0h0m9 0h0m3 0h0m5 0h0m229 0h0m-390 1h0m139 0h0m4 0h0m237 0h0m-264 1h0m17 0h0m3 0h0m101 0h0m154 0h0m-291 1h0m8 0h0m11 0h0m7 0h0m111 0h0m-235 1h0m103 0h0m3 0h0m3 0h0m2 0h0m1 0h0m8 0h0m260 0h0m-345 1h0m62 0h0m280 0h0m-5 1h0m-371 1h0m36 0h0m201 0h0m-200 1h0m-37 2h0m241 2h0m-201 2h0m-76 2h0m1 1h0m1 4h0m0 2h0m4 0h0m61 1h0m-62 1h0m56 3h0m1 1h0m-57 4h0m3 2h0m546 4h0m115 0h0m-657 1h0m1 3h0m143 0h0m-144 2h0m552 0h0m-1 1h0m110 0h0m-107 1h0m106 2h0m2 0h0m-99 4h0m101 0h0m-384 1h0m1 1h0m58 1h0m327 0h0m-513 3h0m184 0h0m2 1h0m229 0h0m1 0h0m102 1h0m-99 1h0m-415 2h0m517 2h0m-516 2h0m150 0h0m269 0h0m2 0h0m-420 2h0m420 0h0m2 1h0m3 2h0m95 0h0m1 0h0m-526 2h0m431 0h0m-277 2h0m280 0h0m93 0h0m-528 1h0m-5 3h0m445 2h0m-286 1h0m-27 1h0m1 0h0m-105 1h0m2 1h0m161 0h0m-1 2h0m-160 2h0m420 0h0m-419 1h0m160 0h0m-162 1h0m-6 1h0m5 0h0m131 0h0m33 0h0m-59 1h0m322 0h0m-265 2h0m-173 1h0m-6 1h0m447 2h0m-297 5h0m28 0h0m274 0h0m-425 3h0m-41 3h0m471 1h0m-467 2h0m1 0h0m467 0h0m-467 1h0m1 0h0m38 0h0m-38 1h0m38 0h0m3 0h0m90 0h0m335 0h0m-431 1h0m1 0h0m120 0h0m312 0h0m-434 1h0m123 0h0m310 0h0m-465 1h0m31 0h0m1 0h0m-6 1h0m443 0h0m-3 2h0m-424 1h0m86 0h0m342 1h0m-343 1h0m1 1h0m344 0h0m-424 3h0m425 0h0m-347 2h0m348 0h0m0 1h0m1 0h0m1 0h0m-424 1h0m423 1h0m-422 1h0m425 1h0m-425 1h0m75 1h0m26 0h0m-110 1h0m-4 2h0m-23 3h0m-1 3h0m36 1h0m2 0h0m0 1h0m1 0h0m2 0h0m-36 2h0m1 0h0m184 0h0m-150 1h0m151 0h0m279 0h0m1 0h0m-463 1h0m184 0h0m277 0h0m-277 1h0m2 1h0m3 0h0m276 1h0m-427 1h0m154 0h0m3 0h0m-3 1h0m274 0h0m-427 1h0m157 0h0m-157 1h0m-2 1h0m1 0h0m162 0h0m-168 1h0m3 0h0m1 0h0m-7 4h0m1 0h0m-2 2h0m441 0h0m2 2h0m0 2h0m2 1h0m-435 1h0m-1 1h0m1 0h0m8 1h0m-3 1h0m1 0h0m429 0h0m-423 2h0m-6 1h0m4 0h0m1 0h0m-3 1h0m2 0h0m-10 1h0m0 1h0m165 19h0m1 0h0m2 2h0m2 0h0m4 2h0m8 1h0m-2 1h0m3 0h0m-2 1h0m8 2h0m5 1h0m-32 20h0m1 1h0m2 1h0m6 0h0m337 50h0m-89 9h0m-524 5h0m5 5h0m0 1h0m-17 1h0m18 2h0m-16 1h0m21 2h0m516 2h0m0 2h0m88 1h0m-632 7h0m-18 1h0m18 1h0m-16 4h0m1 0h0m19 0h0m3 2h0m617 3h0m-634 1h0m631 0h0m-631 2h0m0 1h0m579 4h0m63 0h0m-41 1h0m8 0h0m6 0h0m31 0h0m3 3h0m1 4h0" stroke="#a08060" stroke-width="1.3" stroke-linecap="square"/>
<path d="M438 88h0m6 0h0m-6 1h0m2 0h0m2 1h0m4 3h0m83 9h0m-2 2h0m-6 5h0m15 0h0m-16 1h0m2 0h0m8 0h0m-4 1h0m12 0h0m-12 1h0m1 1h0m3 0h0m0 2h0m-225 1h0m-5 2h0m11 0h0m-5 2h0m-11 2h0m1 0h0m-2 1h0m6 0h0m3 0h0m1 0h0m3 0h0m3 0h0m6 0h0m-5 1h0m-22 1h0m2 0h0m8 0h0m13 0h0m1 0h0m-24 1h0m2 0h0m7 0h0m6 0h0m1 0h0m3 0h0m-5 1h0m5 0h0m2 0h0m-4 1h0m2 0h0m1 1h0m-5 1h0m1 0h0m2 0h0m2 0h0m-2 1h0m-15 1h0m14 0h0m-2 1h0m-1 1h0m0 2h0m-5 2h0m-9 9h0m-8 2h0m0 1h0m3 1h0m7 2h0m-8 2h0m0 1h0m1 0h0m-25 1h0m25 0h0m3 0h0m-31 1h0m0 1h0m32 0h0m-33 1h0m5 0h0m20 0h0m-24 1h0m285 0h0m-279 1h0m312 0h0m1 0h0m4 0h0m1 0h0m-319 1h0m308 0h0m2 0h0m2 0h0m-314 1h0m279 0h0m5 0h0m-281 1h0m272 0h0m9 0h0m29 0h0m4 0h0m-43 1h0m39 0h0m6 0h0m-320 1h0m4 0h0m278 0h0m32 0h0m10 0h0m-323 1h0m280 0h0m6 0h0m19 0h0m-24 1h0m1 0h0m-287 1h0m288 0h0m4 0h0m26 0h0m11 0h0m-10 1h0m2 0h0m4 0h0m-11 1h0m1 0h0m3 0h0m7 0h0m-33 1h0m22 0h0m0 1h0m9 0h0m-40 1h0m8 0h0m30 0h0m-6 1h0m2 0h0m5 0h0m-26 3h0m-9 2h0m-1 2h0m3 0h0m3 0h0m4 0h0m-6 3h0m-88 15h0m2 1h0m2 1h0m-9 1h0m2 0h0m7 0h0m-5 1h0m-5 1h0m5 2h0m0 1h0m-4 1h0m1 0h0m2 0h0m-1 2h0m-2 2h0m32 29h0m2 0h0m-3 1h0m3 0h0m1 0h0m-8 2h0m79 1h0m3 0h0m-86 1h0m3 0h0m81 0h0m26 0h0m-26 1h0m5 0h0m-74 1h0m65 1h0m37 1h0m-105 1h0m-9 1h0m79 0h0m10 0h0m26 0h0m29 0h0m-4 1h0m2 0h0m-220 1h0m1 0h0m80 0h0m112 0h0m-114 1h0m82 0h0m26 0h0m-187 1h0m161 0h0m-164 1h0m164 1h0m-104 3h0m-2 1h0m-1 1h0m4 1h0m4 0h0m-10 2h0m3 0h0m37 1h0m-33 1h0m35 0h0m6 0h0m-44 1h0m35 0h0m-38 1h0m35 0h0m2 0h0m-39 1h0m2 0h0m41 1h0m-39 1h0m28 0h0m0 1h0m5 0h0m3 1h0m-7 1h0m-66 1h0m67 0h0m5 0h0m-74 2h0m70 0h0m-95 13h0m0 4h0m-82 8h0m5 1h0m62 5h0m-4 2h0m0 2h0m1 2h0m17 0h0m2 1h0m7 0h0m-35 6h0m-6 1h0m4 0h0m4 2h0m-1 1h0m1 0h0m1 0h0m2 0h0m-22 2h0m16 0h0m-8 1h0m3 0h0m-11 1h0m-13 3h0m-7 4h0m5 0h0m-8 2h0m3 0h0m3 1h0m-1 2h0m4 0h0m1 0h0m-8 3h0m3 0h0m83 26h0m1 0h0m-12 2h0m12 0h0m0 1h0m-9 1h0m-3 3h0m-9 6h0m2 1h0m-36 18h0m63 4h0m0 1h0m0 2h0" stroke="#b89878" stroke-width="1.4" stroke-linecap="square"/>
<path d="M443 88h0m-3 1h0m3 1h0m-4 2h0m5 0h0m-5 2h0m2 2h0m-134 16h0m1 1h0m-2 1h0m3 0h0m-3 1h0m-3 1h0m4 2h0m-9 1h0m8 0h0m-10 1h0m10 0h0m4 1h0m4 0h0m-9 1h0m9 0h0m-19 1h0m5 0h0m1 0h0m2 0h0m1 0h0m4 0h0m-2 1h0m1 0h0m5 0h0m3 0h0m-13 1h0m4 0h0m-6 1h0m8 0h0m9 0h0m-14 1h0m10 0h0m-4 1h0m4 0h0m-8 1h0m2 0h0m7 0h0m-24 1h0m17 0h0m1 0h0m1 0h0m2 0h0m-5 1h0m1 0h0m-7 1h0m5 0h0m1 0h0m2 0h0m2 0h0m-15 3h0m1 0h0m6 0h0m1 0h0m-13 14h0m0 1h0m1 0h0m-5 1h0m-9 1h0m14 0h0m-9 1h0m3 0h0m-3 1h0m1 0h0m9 2h0m1 0h0m-36 1h0m-2 1h0m5 0h0m27 0h0m-31 1h0m6 0h0m24 0h0m-34 1h0m8 0h0m1 0h0m18 0h0m-29 1h0m324 1h0m-319 2h0m6 0h0m4 0h0m310 0h0m5 0h0m-15 3h0m1 1h0m-308 1h0m309 2h0m1 2h0m1 0h0m8 0h0m-7 2h0m1 1h0m-115 25h0m-4 2h0m5 0h0m-8 2h0m1 0h0m4 0h0m-7 1h0m2 0h0m6 0h0m6 1h0m-10 2h0m5 0h0m4 0h0m-8 1h0m0 2h0m1 1h0m1 1h0m30 29h0m-3 1h0m1 0h0m-5 2h0m0 1h0m10 0h0m72 0h0m-1 1h0m33 0h0m-117 2h0m11 0h0m2 0h0m1 1h0m65 0h0m-78 1h0m78 0h0m3 0h0m56 0h0m-126 1h0m71 0h0m56 0h0m-136 1h0m80 0h0m2 0h0m-80 1h0m2 0h0m88 0h0m15 0h0m7 0h0m-32 1h0m29 0h0m1 0h0m-111 1h0m-82 1h0m80 0h0m87 0h0m27 1h0m-194 1h0m192 0h0m2 0h0m30 0h0m-167 4h0m2 0h0m4 0h0m-7 1h0m2 0h0m1 1h0m1 0h0m1 0h0m3 0h0m-86 2h0m74 0h0m9 0h0m4 0h0m31 1h0m5 1h0m-45 2h0m46 1h0m-47 1h0m35 0h0m14 0h0m-49 1h0m32 0h0m11 2h0m-6 2h0m-5 1h0m6 0h0m-3 1h0m3 0h0m-72 3h0m-23 11h0m-81 11h0m60 3h0m-63 1h0m63 2h0m1 2h0m1 2h0m20 1h0m4 0h0m-6 1h0m-22 1h0m22 3h0m-29 1h0m-6 2h0m2 0h0m1 0h0m-5 1h0m6 1h0m-16 2h0m20 0h0m-8 1h0m5 0h0m-5 1h0m1 1h0m-13 1h0m8 0h0m3 0h0m-3 1h0m-23 9h0m0 1h0m0 1h0m-2 1h0m2 0h0m-3 3h0m80 23h0m-8 5h0m1 0h0m12 1h0m-19 11h0m26 18h0m-66 1h0m3 3h0" stroke="#d0b8b8" stroke-width="1.4" stroke-linecap="square"/>
<path d="M443 87h0m-4 1h0m4 0h0m2 0h0m-4 1h0m-4 1h0m5 0h0m-3 1h0m3 0h0m1 1h0m-4 1h0m5 1h0m0 1h0m1 0h0m-1 2h0m0 1h0m88 3h0m-3 2h0m0 1h0m5 1h0m-12 2h0m2 1h0m1 0h0m11 0h0m-3 1h0m2 0h0m2 0h0m-12 1h0m7 0h0m-9 1h0m2 1h0m1 0h0m-3 1h0m5 1h0m-225 1h0m2 0h0m218 0h0m-220 1h0m226 0h0m-230 3h0m2 0h0m4 0h0m3 0h0m-11 2h0m1 0h0m5 0h0m7 0h0m-4 1h0m1 0h0m1 0h0m-9 1h0m3 0h0m4 0h0m8 0h0m-16 1h0m2 0h0m5 1h0m1 0h0m2 0h0m-6 1h0m13 0h0m1 0h0m-26 1h0m23 0h0m3 0h0m-30 1h0m22 0h0m2 0h0m2 0h0m1 0h0m-7 1h0m3 0h0m-3 1h0m1 0h0m2 0h0m-3 1h0m1 0h0m-16 1h0m12 2h0m-2 3h0m0 1h0m-3 1h0m-10 7h0m1 2h0m-2 3h0m-11 1h0m9 1h0m7 2h0m-14 1h0m-20 1h0m1 0h0m23 0h0m6 1h0m-33 1h0m8 0h0m1 0h0m16 0h0m9 0h0m-4 1h0m-34 1h0m4 0h0m5 0h0m1 0h0m279 0h0m39 0h0m-317 1h0m2 0h0m277 0h0m33 0h0m5 0h0m-329 1h0m12 0h0m278 0h0m-277 1h0m277 0h0m1 0h0m36 0h0m-40 1h0m3 0h0m2 0h0m39 0h0m-39 1h0m34 0h0m2 0h0m3 0h0m-327 1h0m1 0h0m284 0h0m2 0h0m3 0h0m30 0h0m2 0h0m-31 1h0m22 0h0m6 0h0m1 0h0m-31 1h0m2 0h0m1 0h0m19 0h0m1 0h0m12 0h0m-37 1h0m5 0h0m21 0h0m18 0h0m-44 1h0m1 0h0m1 0h0m30 0h0m5 1h0m2 0h0m-36 1h0m-7 1h0m6 0h0m2 0h0m2 0h0m2 0h0m27 0h0m-33 1h0m32 0h0m-6 1h0m-29 1h0m6 0h0m24 0h0m-24 1h0m-7 1h0m3 1h0m6 0h0m1 2h0m2 0h0m-10 1h0m9 0h0m-7 2h0m-83 17h0m-7 1h0m2 0h0m-6 3h0m5 0h0m7 0h0m-11 1h0m1 0h0m10 0h0m-17 1h0m13 0h0m4 0h0m-10 1h0m9 0h0m-4 1h0m26 33h0m80 3h0m1 0h0m1 0h0m-86 1h0m9 0h0m72 0h0m-81 1h0m83 0h0m-4 1h0m1 0h0m-76 1h0m4 0h0m3 0h0m67 0h0m32 1h0m-113 1h0m2 1h0m5 0h0m3 0h0m78 0h0m21 0h0m3 2h0m2 0h0m-108 1h0m-2 1h0m83 0h0m58 0h0m-144 1h0m86 1h0m25 0h0m27 0h0m6 1h0m-224 1h0m222 0h0m-161 1h0m158 1h0m-160 1h0m4 1h0m-2 1h0m3 0h0m-10 1h0m7 1h0m-9 1h0m3 0h0m12 0h0m30 0h0m2 0h0m-37 2h0m30 0h0m1 1h0m-38 1h0m7 0h0m29 0h0m-36 1h0m3 0h0m31 0h0m14 0h0m-49 1h0m33 0h0m0 2h0m-1 1h0m2 1h0m-69 2h0m2 2h0m2 1h0m-28 11h0m2 1h0m-4 1h0m1 0h0m5 2h0m-88 6h0m-2 1h0m8 0h0m-1 1h0m0 2h0m62 0h0m-4 3h0m22 4h0m5 1h0m-5 4h0m-29 1h0m-2 2h0m3 0h0m-7 1h0m8 0h0m-12 1h0m2 0h0m-1 1h0m12 0h0m-14 1h0m7 1h0m5 0h0m0 1h0m-5 1h0m-13 1h0m12 0h0m7 0h0m-7 1h0m-14 3h0m-15 3h0m2 0h0m-4 1h0m-4 1h0m3 2h0m4 0h0m-3 1h0m6 2h0m-4 1h0m1 0h0m-20 7h0m89 18h0m14 1h0m-14 1h0m1 0h0m10 0h0m-11 2h0m1 2h0m10 0h0m-8 4h0m-11 6h0m0 1h0m1 1h0m3 2h0m-41 13h0m67 1h0m-67 1h0" stroke="#a08060" stroke-width="1.4" stroke-linecap="square"/>
<path d="M441 87h0m4 1h0m-8 2h0m5 3h0m1 1h0m3 1h0m-139 18h0m0 1h0m2 2h0m-8 1h0m-1 1h0m12 0h0m-15 1h0m11 0h0m-3 1h0m2 0h0m5 0h0m-16 1h0m9 0h0m-5 1h0m-1 1h0m3 0h0m5 0h0m5 0h0m-22 1h0m11 1h0m13 0h0m2 0h0m1 0h0m-29 1h0m2 0h0m8 0h0m3 0h0m6 0h0m2 0h0m-23 1h0m19 0h0m8 0h0m1 0h0m2 0h0m-29 1h0m6 0h0m15 0h0m1 0h0m1 0h0m-2 1h0m1 0h0m-19 1h0m13 0h0m2 0h0m4 0h0m1 0h0m-3 1h0m1 0h0m-2 1h0m1 0h0m-15 1h0m12 1h0m1 0h0m1 0h0m-10 1h0m1 4h0m1 0h0m-11 8h0m3 0h0m-7 2h0m-1 2h0m2 0h0m-2 2h0m2 0h0m-3 1h0m-20 2h0m-6 1h0m29 0h0m3 1h0m-32 1h0m8 1h0m2 0h0m19 1h0m-23 1h0m20 0h0m293 0h0m-312 1h0m3 0h0m-9 1h0m3 0h0m2 0h0m3 0h0m306 0h0m-306 1h0m1 0h0m-4 1h0m4 0h0m301 0h0m4 0h0m4 0h0m2 0h0m6 1h0m-4 2h0m-323 1h0m312 0h0m8 0h0m10 0h0m-12 1h0m-1 3h0m2 0h0m-2 2h0m-114 25h0m2 0h0m0 1h0m-7 2h0m-5 2h0m14 0h0m-15 1h0m10 0h0m4 0h0m-8 1h0m-2 1h0m0 1h0m5 0h0m3 0h0m-2 1h0m-5 2h0m2 0h0m-4 1h0m0 1h0m32 29h0m-3 2h0m-1 1h0m86 0h0m-90 1h0m85 0h0m2 0h0m-85 2h0m84 0h0m-72 1h0m-13 1h0m4 0h0m5 0h0m2 0h0m1 0h0m3 0h0m-14 1h0m2 0h0m8 0h0m72 0h0m60 0h0m-137 1h0m87 0h0m17 0h0m-108 1h0m83 0h0m31 0h0m-26 1h0m-6 1h0m-166 1h0m227 1h0m-5 1h0m-158 3h0m-1 1h0m-3 2h0m2 0h0m1 0h0m-5 3h0m4 0h0m36 1h0m1 0h0m-43 1h0m9 0h0m33 0h0m-116 1h0m76 0h0m1 1h0m39 0h0m1 1h0m-41 1h0m38 0h0m-4 1h0m1 0h0m6 0h0m3 1h0m-4 2h0m-4 1h0m2 0h0m-2 2h0m-1 1h0m-70 1h0m-26 12h0m5 2h0m-85 8h0m59 5h0m1 7h0m20 0h0m-30 6h0m0 2h0m-8 1h0m8 0h0m1 0h0m10 0h0m-3 1h0m-8 1h0m3 0h0m6 0h0m-4 1h0m-19 4h0m-16 4h0m1 1h0m16 0h0m-22 1h0m3 0h0m1 0h0m-3 1h0m-4 1h0m25 0h0m-23 1h0m0 1h0m2 1h0m-1 4h0m-14 5h0m-2 1h0m1 0h0m-2 1h0m95 21h0m6 0h0m-14 12h0m-3 4h0m-38 12h0m0 3h0m2 0h0m-2 1h0" stroke="#e8e4ec" stroke-width="1.4" stroke-linecap="square"/>
<path d="M442 87h0m-3 2h0m1 0h0m1 0h0m3 1h0m2 1h0m-9 1h0m3 0h0m3 1h0m1 0h0m1 0h0m-1 1h0m1 3h0m-137 18h0m-5 1h0m1 0h0m-2 1h0m-2 1h0m-2 2h0m6 1h0m1 0h0m4 0h0m-15 1h0m4 0h0m2 0h0m6 0h0m4 0h0m-8 1h0m2 0h0m11 0h0m-23 1h0m23 0h0m1 0h0m-17 1h0m1 0h0m1 0h0m10 0h0m-8 1h0m10 0h0m3 0h0m-10 1h0m-20 1h0m18 0h0m2 0h0m5 0h0m1 0h0m-12 1h0m4 0h0m5 0h0m1 0h0m1 0h0m-7 1h0m3 0h0m-1 1h0m1 0h0m2 0h0m-5 1h0m2 0h0m3 0h0m-16 1h0m12 0h0m2 0h0m-13 1h0m5 2h0m-2 4h0m-3 2h0m-5 4h0m-2 2h0m2 3h0m-13 2h0m5 0h0m1 0h0m-5 1h0m15 2h0m-35 2h0m26 0h0m-27 1h0m4 0h0m-6 1h0m24 0h0m8 0h0m-25 1h0m19 0h0m293 0h0m1 0h0m-293 1h0m292 1h0m1 0h0m7 0h0m-326 1h0m321 0h0m4 0h0m-5 1h0m-323 1h0m325 0h0m-318 1h0m0 1h0m325 0h0m-6 1h0m-3 1h0m-3 1h0m2 0h0m5 0h0m2 0h0m2 0h0m-8 1h0m2 1h0m-2 2h0m-4 2h0m-114 23h0m2 1h0m-7 2h0m-3 2h0m12 0h0m-8 1h0m-7 1h0m3 0h0m3 4h0m3 2h0m29 30h0m78 2h0m-76 2h0m-6 1h0m78 0h0m7 0h0m19 0h0m-112 1h0m85 0h0m30 0h0m-113 1h0m1 0h0m2 0h0m9 1h0m2 0h0m70 0h0m-71 1h0m80 0h0m1 0h0m-84 1h0m78 1h0m4 1h0m48 0h0m-137 1h0m3 0h0m1 0h0m76 0h0m6 0h0m2 0h0m-86 1h0m85 0h0m-171 1h0m4 0h0m191 0h0m-28 2h0m28 0h0m31 1h0m-165 4h0m2 0h0m-4 1h0m-1 1h0m-2 1h0m-77 1h0m2 0h0m85 0h0m38 0h0m-50 1h0m9 0h0m31 0h0m9 0h0m2 0h0m-7 1h0m-42 1h0m41 0h0m-3 1h0m8 0h0m-10 1h0m7 0h0m7 0h0m-48 1h0m3 0h0m27 1h0m2 0h0m12 1h0m-13 1h0m13 0h0m-7 3h0m-94 13h0m-4 1h0m-83 9h0m3 1h0m86 10h0m2 0h0m-8 1h0m2 1h0m-2 2h0m-1 1h0m-22 1h0m25 0h0m-30 2h0m-5 2h0m4 1h0m-1 1h0m2 0h0m-18 2h0m16 1h0m-8 1h0m1 0h0m5 0h0m3 0h0m1 0h0m-10 2h0m3 0h0m-8 2h0m-17 6h0m-8 1h0m1 0h0m6 0h0m2 0h0m-6 1h0m-3 1h0m4 0h0m8 1h0m-24 10h0m88 18h0m1 2h0m10 0h0m-7 1h0m-1 2h0m0 2h0m1 0h0m3 0h0m-4 1h0m-6 10h0m26 16h0m2 0h0m-2 1h0m-68 1h0" stroke="#c8a898" stroke-width="1.4" stroke-linecap="square"/>
<path d="M441 87h0m1 0h0m2 0h0m-5 1h0m6 1h0m-4 1h0m-1 1h0m6 0h0m-2 1h0m-5 1h0m3 2h0m2 1h0m-138 18h0m-3 1h0m-4 4h0m13 0h0m-15 1h0m1 0h0m-1 1h0m5 0h0m1 0h0m0 1h0m12 0h0m-15 1h0m10 0h0m-18 1h0m10 0h0m6 0h0m7 0h0m-21 1h0m9 0h0m-2 1h0m2 0h0m1 0h0m2 1h0m1 0h0m-1 1h0m2 0h0m5 0h0m1 0h0m-21 1h0m12 0h0m1 0h0m4 0h0m-11 1h0m8 0h0m1 0h0m-1 1h0m3 1h0m-19 1h0m16 0h0m-6 4h0m-3 1h0m-2 1h0m1 1h0m-2 1h0m-6 7h0m-9 2h0m1 2h0m1 0h0m-2 1h0m2 1h0m3 0h0m0 1h0m7 0h0m-6 1h0m7 0h0m-35 1h0m21 0h0m-15 1h0m23 0h0m1 1h0m291 1h0m-320 2h0m22 0h0m1 0h0m293 1h0m-312 1h0m309 0h0m-310 1h0m-9 1h0m315 0h0m-309 1h0m318 0h0m6 2h0m-16 1h0m1 0h0m11 0h0m-13 1h0m11 0h0m1 0h0m-10 1h0m12 0h0m-2 2h0m-8 3h0m-113 22h0m2 1h0m-2 1h0m1 0h0m-5 1h0m8 0h0m-10 1h0m-1 1h0m3 1h0m-5 1h0m-4 1h0m1 0h0m5 0h0m5 0h0m-10 1h0m5 0h0m9 1h0m-2 1h0m-2 1h0m-5 5h0m34 28h0m1 0h0m-5 1h0m1 0h0m4 0h0m77 0h0m-82 1h0m80 0h0m-84 1h0m10 0h0m75 0h0m-81 2h0m4 0h0m-11 1h0m2 0h0m82 0h0m-81 1h0m9 1h0m-8 1h0m81 0h0m62 0h0m-52 1h0m50 0h0m-4 1h0m-136 1h0m83 0h0m-84 1h0m140 0h0m-221 1h0m7 0h0m189 0h0m-114 1h0m137 0h0m4 0h0m-61 1h0m1 0h0m-101 1h0m1 1h0m-3 1h0m-1 2h0m-2 1h0m4 0h0m-8 1h0m13 0h0m-88 1h0m89 0h0m33 0h0m-46 1h0m2 0h0m10 0h0m30 0h0m2 0h0m2 0h0m-42 1h0m5 0h0m-9 1h0m41 0h0m-42 1h0m49 0h0m-48 1h0m3 0h0m38 0h0m-6 1h0m7 0h0m-4 1h0m-6 1h0m1 0h0m3 0h0m9 0h0m-2 1h0m-77 2h0m72 0h0m1 0h0m4 0h0m-9 2h0m-67 3h0m70 0h0m-71 1h0m-21 14h0m-25 9h0m-59 1h0m61 1h0m2 0h0m-1 5h0m20 1h0m-2 2h0m-24 3h0m-2 1h0m1 0h0m-7 1h0m0 2h0m-6 1h0m6 0h0m-4 1h0m7 1h0m9 0h0m-27 1h0m9 2h0m5 0h0m-6 2h0m4 0h0m-13 1h0m1 0h0m10 0h0m-25 4h0m-3 1h0m8 0h0m-3 1h0m-9 1h0m3 0h0m1 1h0m1 0h0m3 5h0m-6 1h0m4 0h0m-1 1h0m-19 4h0m2 3h0m103 16h0m-4 4h0m2 2h0m-13 2h0m3 4h0m-8 9h0m26 14h0m-65 2h0m2 1h0m67 0h0m-2 2h0" stroke="#b89890" stroke-width="1.4" stroke-linecap="square"/>
<path d="M439 88h0m1 0h0m4 0h0m-5 1h0m5 0h0m-6 1h0m4 0h0m-2 1h0m2 0h0m2 0h0m-4 2h0m0 1h0m-133 18h0m-1 2h0m-4 2h0m1 3h0m4 0h0m5 0h0m-10 1h0m-5 1h0m12 0h0m-13 1h0m-4 1h0m1 0h0m10 0h0m3 0h0m9 0h0m-23 1h0m16 0h0m2 0h0m-5 1h0m2 0h0m-6 1h0m2 0h0m1 0h0m3 0h0m2 0h0m2 0h0m-5 1h0m4 0h0m0 1h0m2 0h0m1 0h0m-28 1h0m19 0h0m3 0h0m3 0h0m-12 1h0m6 0h0m7 0h0m-21 1h0m16 0h0m-2 1h0m3 0h0m-16 1h0m-4 16h0m-10 2h0m7 0h0m3 2h0m-1 1h0m1 0h0m-4 1h0m3 1h0m7 0h0m-35 2h0m30 0h0m-28 1h0m3 1h0m21 0h0m293 0h0m-316 2h0m1 0h0m312 0h0m1 0h0m-313 1h0m4 0h0m310 0h0m-314 1h0m319 0h0m-327 1h0m7 1h0m307 0h0m2 1h0m7 0h0m-320 1h0m2 0h0m319 0h0m-1 1h0m-4 1h0m1 0h0m-1 1h0m2 0h0m6 0h0m-6 1h0m5 0h0m-5 1h0m1 1h0m-4 3h0m-118 24h0m2 0h0m4 2h0m-7 1h0m1 0h0m-5 2h0m0 1h0m10 0h0m2 0h0m-10 1h0m4 0h0m4 1h0m1 0h0m-8 1h0m5 0h0m-4 1h0m-1 1h0m3 0h0m-3 1h0m1 1h0m28 29h0m-3 3h0m84 0h0m2 0h0m-88 1h0m89 0h0m1 2h0m-91 1h0m4 0h0m77 0h0m35 1h0m24 0h0m-134 2h0m4 0h0m1 0h0m102 0h0m27 0h0m-138 1h0m4 1h0m79 0h0m5 0h0m22 1h0m-111 1h0m2 0h0m82 0h0m1 0h0m1 0h0m-165 1h0m164 0h0m53 0h0m-53 1h0m-162 1h0m214 0h0m-154 2h0m-3 2h0m6 2h0m-7 2h0m1 1h0m-85 1h0m3 0h0m83 0h0m1 0h0m34 0h0m5 0h0m-49 2h0m7 0h0m33 0h0m-34 1h0m38 1h0m-5 1h0m-4 1h0m6 3h0m-3 2h0m2 0h0m-98 14h0m1 3h0m2 1h0m-84 8h0m65 2h0m18 6h0m6 4h0m-30 2h0m-11 3h0m4 0h0m2 0h0m4 3h0m-4 1h0m6 0h0m-25 1h0m16 3h0m-32 6h0m-3 3h0m0 1h0m-2 1h0m2 0h0m1 0h0m1 1h0m9 1h0m-7 2h0m2 0h0m-24 7h0m91 18h0m17 1h0m-24 17h0m3 0h0m-39 19h0m63 0h0m1 2h0m1 0h0" stroke="#f4f0f0" stroke-width="1.4" stroke-linecap="square"/>
<path d="M987 98h0m-10 1h0m6 0h0m-9 1h0m-3 4h0m-1 4h0m-661 5h0m-3 1h0m-3 1h0m6 0h0m680 1h0m-688 1h0m0 1h0m1 0h0m698 1h0m-698 1h0m11 0h0m-19 2h0m2 0h0m4 2h0m3 0h0m632 0h0m-644 1h0m16 1h0m10 0h0m-29 1h0m8 1h0m18 0h0m623 0h0m-641 2h0m14 0h0m-1 1h0m656 0h0m-658 2h0m-12 1h0m6 1h0m1 0h0m0 2h0m-3 1h0m637 0h0m-638 1h0m-3 2h0m687 13h0m-49 15h0m22 0h0m1 2h0m31 3h0m-530 26h0m-5 4h0m8 0h0m-12 1h0m-1 1h0m8 0h0m-5 3h0m3 0h0m2 0h0m-3 1h0m4 1h0m-4 1h0m1 0h0m0 1h0m2 0h0m-4 2h0m29 29h0m2 0h0m1 0h0m-1 1h0m3 0h0m80 1h0m-6 1h0m1 0h0m-2 1h0m2 0h0m-3 1h0m9 0h0m-82 1h0m82 0h0m-88 1h0m87 0h0m2 0h0m-84 1h0m84 0h0m-82 1h0m72 1h0m2 0h0m8 0h0m-90 2h0m87 0h0m-3 1h0m2 1h0m-105 5h0m-5 2h0m1 0h0m2 0h0m1 0h0m-4 1h0m-2 1h0m6 0h0m4 0h0m-6 1h0m41 1h0m2 0h0m-52 1h0m4 0h0m1 0h0m40 0h0m2 0h0m-4 1h0m1 0h0m7 0h0m-43 1h0m32 0h0m-28 1h0m26 0h0m8 0h0m-41 1h0m35 0h0m7 0h0m-9 1h0m1 0h0m15 1h0m-16 3h0m546 26h0m3 0h0m0 1h0m-5 1h0m5 1h0m1 1h0m1 0h0m-6 1h0m6 0h0m-6 1h0m7 0h0m4 0h0m-10 1h0m1 0h0m2 0h0m3 1h0m-72 16h0m1 0h0m115 0h0m2 0h0m-122 1h0m119 1h0m1 0h0m-120 1h0m4 0h0m112 0h0m6 0h0m-120 1h0m113 0h0m7 0h0m-8 1h0m-115 1h0m4 0h0m-4 1h0m3 0h0m-1 1h0m1 0h0m71 1h0m-3 1h0m4 0h0m1 0h0m0 1h0m-1 1h0m3 1h0m-7 1h0m4 0h0m-1 2h0m109 18h0m-2 1h0m2 1h0m2 0h0m-2 2h0m0 2h0m-94 3h0" stroke="#2a2830" stroke-width="1.4" stroke-linecap="square"/>
<path d="M443 87h0m-4 1h0m1 1h0m0 2h0m4 1h0m1 3h0m-4 1h0m2 0h0m2 0h0m-140 18h0m0 1h0m-3 1h0m8 0h0m-11 2h0m2 0h0m10 0h0m-4 2h0m-1 1h0m6 0h0m-8 1h0m2 0h0m1 0h0m2 0h0m1 0h0m6 0h0m-16 1h0m8 0h0m2 0h0m-9 1h0m5 0h0m5 0h0m1 0h0m3 0h0m-10 1h0m7 0h0m5 0h0m-18 1h0m10 0h0m-21 1h0m7 0h0m11 0h0m7 0h0m-27 1h0m18 0h0m3 0h0m1 1h0m2 0h0m3 0h0m-9 1h0m2 0h0m4 0h0m1 1h0m-3 1h0m-6 2h0m-1 4h0m-18 11h0m4 1h0m-6 2h0m1 0h0m2 0h0m7 0h0m-7 1h0m1 0h0m7 0h0m-15 1h0m14 0h0m-2 2h0m-27 1h0m17 0h0m12 0h0m-12 1h0m8 0h0m-3 2h0m2 0h0m2 0h0m4 0h0m286 0h0m-328 1h0m30 0h0m4 0h0m288 0h0m4 1h0m4 0h0m-314 2h0m303 0h0m7 0h0m3 0h0m-325 1h0m322 0h0m-3 1h0m-8 1h0m-307 1h0m320 0h0m-4 1h0m4 1h0m1 1h0m-4 2h0m2 0h0m-121 27h0m4 1h0m-1 1h0m-8 1h0m7 0h0m-5 1h0m-7 2h0m15 0h0m-16 1h0m2 0h0m9 0h0m-7 1h0m1 0h0m2 2h0m2 3h0m-3 1h0m32 29h0m1 0h0m1 0h0m-4 1h0m-3 1h0m7 0h0m79 0h0m-86 1h0m2 0h0m79 1h0m-2 1h0m32 0h0m-118 1h0m7 0h0m109 3h0m29 0h0m-139 1h0m7 0h0m74 0h0m3 0h0m25 0h0m-104 1h0m2 0h0m74 0h0m1 0h0m-78 1h0m79 0h0m2 0h0m2 0h0m55 0h0m1 0h0m-56 1h0m1 0h0m2 0h0m20 0h0m4 0h0m21 0h0m3 0h0m4 0h0m-220 3h0m-2 1h0m191 0h0m-132 2h0m159 0h0m-157 1h0m1 0h0m1 0h0m-6 1h0m0 2h0m1 0h0m-4 1h0m45 0h0m-46 1h0m5 0h0m1 0h0m2 0h0m36 0h0m1 0h0m-37 1h0m36 0h0m1 0h0m-39 1h0m37 0h0m4 1h0m-12 2h0m7 0h0m-8 1h0m1 0h0m1 0h0m4 0h0m2 0h0m-11 1h0m11 0h0m1 1h0m0 2h0m1 0h0m-11 1h0m6 0h0m2 0h0m-76 3h0m3 1h0m-107 22h0m0 1h0m59 10h0m2 3h0m-4 2h0m24 0h0m-24 1h0m-3 1h0m-3 2h0m0 1h0m10 1h0m-28 3h0m19 0h0m-6 3h0m-12 1h0m2 0h0m-3 3h0m-13 4h0m-9 1h0m24 0h0m-23 1h0m8 3h0m1 0h0m2 0h0m-5 2h0m80 28h0m3 0h0m-11 1h0m-4 2h0m-4 9h0m1 3h0m-2 2h0m-38 15h0m64 2h0" stroke="#d0c8d8" stroke-width="1.4" stroke-linecap="square"/>
<path d="M439 87h0m2 0h0m1 1h0m-3 1h0m2 0h0m-1 2h0m-2 1h0m7 0h0m-3 2h0m-134 19h0m-9 6h0m7 0h0m1 0h0m-5 1h0m1 0h0m2 0h0m-1 2h0m-4 1h0m2 0h0m4 0h0m7 0h0m1 0h0m-14 1h0m1 0h0m-8 1h0m14 2h0m3 0h0m-6 1h0m8 0h0m-9 1h0m1 0h0m2 0h0m3 0h0m5 0h0m-10 1h0m-9 1h0m5 1h0m7 0h0m-3 1h0m-1 2h0m0 1h0m-3 1h0m-18 11h0m0 4h0m-3 2h0m-20 2h0m2 0h0m23 0h0m-5 1h0m5 0h0m3 0h0m6 0h0m-35 1h0m26 0h0m3 0h0m-33 1h0m7 0h0m19 0h0m7 0h0m-27 2h0m24 0h0m291 0h0m-313 2h0m2 0h0m-2 1h0m19 0h0m294 0h0m4 0h0m-321 1h0m313 0h0m10 0h0m-320 1h0m-4 1h0m1 1h0m320 0h0m5 0h0m-330 2h0m319 0h0m7 1h0m-3 1h0m3 0h0m4 0h0m-10 4h0m-118 24h0m2 0h0m-4 2h0m-4 2h0m0 1h0m1 0h0m-1 1h0m13 0h0m-16 1h0m3 0h0m5 0h0m3 0h0m-8 1h0m1 0h0m6 0h0m-1 1h0m4 0h0m1 1h0m-7 1h0m5 0h0m-8 2h0m4 0h0m-4 2h0m1 0h0m30 29h0m4 2h0m1 0h0m76 0h0m-79 1h0m75 0h0m-83 1h0m1 1h0m90 1h0m-81 1h0m4 0h0m67 0h0m11 0h0m21 0h0m-112 1h0m81 0h0m6 0h0m22 0h0m35 1h0m-54 2h0m-7 1h0m-82 1h0m87 0h0m27 1h0m22 0h0m-218 1h0m4 0h0m160 1h0m-100 2h0m-5 3h0m5 0h0m-9 2h0m1 0h0m5 0h0m-9 1h0m1 2h0m8 0h0m31 1h0m10 0h0m-45 1h0m6 0h0m41 0h0m-49 1h0m41 0h0m-6 1h0m14 0h0m-17 1h0m6 3h0m-4 1h0m4 0h0m-4 2h0m-67 1h0m0 1h0m-24 13h0m2 0h0m-2 1h0m-85 10h0m62 3h0m1 4h0m4 1h0m20 5h0m-28 1h0m-6 2h0m4 1h0m-5 2h0m6 0h0m-9 1h0m-1 1h0m10 0h0m5 0h0m-12 1h0m-15 1h0m8 0h0m10 1h0m-9 3h0m1 0h0m-24 4h0m0 1h0m13 0h0m-18 1h0m5 0h0m-7 3h0m3 0h0m1 0h0m3 0h0m-3 2h0m0 1h0m0 1h0m1 0h0m3 0h0m65 28h0m14 0h0m0 1h0m4 0h0m-3 1h0m-57 30h0m1 3h0m1 1h0" stroke="#f0e8e8" stroke-width="1.4" stroke-linecap="square"/>
<path d="M441 87h0m2 1h0m-1 1h0m-1 1h0m1 0h0m4 0h0m-8 1h0m7 3h0m1 1h0m-4 1h0m-137 18h0m0 1h0m-4 1h0m4 2h0m-8 2h0m11 0h0m-15 2h0m2 0h0m20 0h0m-15 1h0m6 0h0m1 0h0m4 0h0m-9 1h0m1 0h0m5 0h0m8 0h0m-17 1h0m1 0h0m1 0h0m2 0h0m4 0h0m2 0h0m3 0h0m4 0h0m-12 1h0m4 0h0m2 0h0m6 0h0m-15 1h0m9 0h0m3 0h0m-9 1h0m2 0h0m5 0h0m1 0h0m-27 1h0m21 0h0m3 0h0m2 0h0m-2 1h0m-14 1h0m1 0h0m14 0h0m-5 1h0m1 0h0m0 1h0m-1 2h0m-10 5h0m-7 7h0m0 2h0m-7 2h0m-4 1h0m-1 1h0m9 0h0m7 0h0m-14 2h0m1 1h0m3 0h0m-24 1h0m2 0h0m18 0h0m-23 1h0m3 0h0m27 0h0m1 0h0m4 0h0m-36 1h0m31 0h0m-31 1h0m6 0h0m-11 1h0m325 0h0m-4 2h0m-306 1h0m1 0h0m311 0h0m-8 2h0m9 0h0m4 0h0m-4 2h0m5 0h0m-327 1h0m3 0h0m325 2h0m-17 1h0m15 0h0m-13 1h0m9 0h0m-8 1h0m5 2h0m-2 1h0m-117 24h0m1 0h0m-1 1h0m-3 1h0m-3 2h0m12 0h0m-6 3h0m5 0h0m-3 3h0m-5 1h0m2 0h0m-1 1h0m-3 1h0m-1 1h0m36 30h0m-6 1h0m2 0h0m80 0h0m2 0h0m-4 1h0m4 0h0m-88 1h0m90 0h0m-9 1h0m-76 2h0m109 0h0m-114 1h0m82 1h0m8 0h0m52 0h0m-50 1h0m1 0h0m-91 1h0m85 0h0m27 0h0m-107 1h0m82 0h0m1 0h0m50 0h0m-219 1h0m166 1h0m52 0h0m-213 1h0m-1 1h0m216 1h0m-159 2h0m1 0h0m158 0h0m-160 1h0m-2 1h0m4 0h0m1 1h0m-10 1h0m1 0h0m-1 1h0m5 0h0m8 0h0m-89 1h0m73 0h0m13 1h0m39 0h0m-50 1h0m9 0h0m42 0h0m-50 1h0m36 0h0m6 0h0m8 0h0m-46 1h0m39 0h0m-7 2h0m-3 1h0m-1 1h0m13 0h0m-6 2h0m-73 1h0m1 4h0m-24 13h0m-1 2h0m-76 8h0m55 2h0m-1 5h0m25 1h0m3 3h0m-7 1h0m4 0h0m5 0h0m-36 5h0m-9 3h0m12 0h0m-15 1h0m16 0h0m-7 1h0m6 0h0m1 0h0m-7 1h0m-18 1h0m16 2h0m-11 1h0m-24 7h0m23 0h0m-21 3h0m3 1h0m3 0h0m2 0h0m-2 1h0m-2 1h0m-19 10h0m100 15h0m-2 1h0m-9 3h0m2 2h0m-1 4h0m-8 9h0m0 2h0m28 13h0m2 1h0" stroke="#e8d8d8" stroke-width="1.4" stroke-linecap="square"/>
<path d="M322 91h0m1 3h0m0 1h0m1 1h0m0 1h0m0 2h0m1 2h0m-1 3h0m93 0h0m-1 1h0m-94 1h0m-3 1h0m100 0h0m1 0h0m-85 9h0m7 10h0m0 9h0m-8 6h0m1 0h0m-8 3h0m239 0h0m-239 1h0m238 1h0m-245 3h0m250 0h0m20 17h0m-29 4h0m-1 8h0m59 0h0m-56 4h0m57 1h0m-31 2h0m-28 2h0m1 1h0m-1 6h0m0 1h0m1 0h0m27 1h0m0 8h0m-28 2h0m0 1h0m29 5h0m-27 5h0m-1 7h0m57 5h0m-1 5h0m-57 1h0m1 2h0m26 9h0m-27 2h0m26 4h0m31 11h0" stroke="#8a5a40" stroke-width="1.3" stroke-linecap="square"/>
<path d="M321 94h0m4 4h0m1 0h0m-2 1h0m1 0h0m-2 5h0m3 0h0m93 2h0m-85 5h0m5 7h0m1 6h0m3 5h0m-4 8h0m3 0h0m-8 4h0m-4 2h0m0 1h0m235 1h0m2 0h0m3 3h0m1 1h0m1 0h0m2 2h0m0 1h0m-13 15h0m2 1h0m56 12h0m1 3h0m-1 1h0m-59 3h0m30 0h0m-2 2h0m-26 2h0m57 0h0m-1 13h0m-57 3h0m0 8h0m27 3h0m2 2h0m30 0h0m-31 3h0m-28 4h0m30 2h0m-31 2h0m57 0h0m1 3h0m-29 1h0m-1 6h0m31 2h0m-31 1h0m-26 1h0m56 5h0m1 3h0" stroke="#c08868" stroke-width="1.3" stroke-linecap="square"/>
<path d="M322 92h0m0 4h0m3 4h0m0 3h0m89 0h0m-89 1h0m89 0h0m-92 1h0m95 0h0m0 1h0m3 0h0m-103 2h0m2 0h0m102 0h0m-103 1h0m15 3h0m3 6h0m4 4h0m0 2h0m1 0h0m3 4h0m-3 10h0m-6 2h0m-2 1h0m-1 2h0m-3 1h0m2 0h0m236 0h0m-243 1h0m242 0h0m-240 1h0m241 1h0m1 0h0m2 1h0m5 3h0m-14 11h0m27 0h0m2 0h0m31 1h0m-31 3h0m28 6h0m-28 1h0m-27 9h0m56 3h0m-57 2h0m27 0h0m-1 8h0m31 7h0m-59 3h0m2 0h0m-2 3h0m58 1h0m0 1h0m-56 4h0m56 6h0m1 1h0m0 1h0m-30 6h0m-28 5h0m1 1h0m56 0h0m-58 3h0m1 0h0m58 0h0m-31 1h0m29 0h0m-30 3h0m1 15h0" stroke="#a87050" stroke-width="1.3" stroke-linecap="square"/>
<path d="M323 92h0m0 2h0m1 5h0m90 3h0m1 2h0m2 0h0m-81 15h0m2 2h0m9 12h0m218 11h0m0 1h0m2 0h0m-244 1h0m241 0h0m1 0h0m5 1h0m3 2h0m-253 1h0m256 1h0m13 14h0m0 5h0m-27 3h0m27 0h0m2 0h0m-29 7h0m28 0h0m-28 2h0m-1 1h0m58 7h0m-57 3h0m-1 5h0m58 0h0m1 9h0m-1 4h0m-30 3h0m31 2h0m-59 10h0m56 2h0m1 4h0m-31 3h0m1 1h0m0 1h0m-26 3h0m57 0h0m0 1h0m-31 2h0m-27 3h0m-1 3h0m58 4h0m-30 6h0" stroke="#d0a080" stroke-width="1.3" stroke-linecap="square"/>
<path d="M322 92h0m0 2h0m3 3h0m-1 3h0m88 0h0m-86 3h0m-1 1h0m91 0h0m1 0h0m-95 1h0m98 2h0m-1 1h0m-74 22h0m0 3h0m-8 6h0m-2 1h0m-4 4h0m234 0h0m-241 1h0m241 1h0m5 0h0m-1 1h0m1 0h0m7 6h0m12 9h0m-27 4h0m57 2h0m-29 9h0m-29 1h0m57 0h0m2 5h0m-1 13h0m-58 9h0m28 7h0m-29 10h0m2 0h0m56 9h0m-29 1h0m0 1h0m-28 1h0m28 0h0m-29 1h0m1 5h0m27 0h0m31 3h0m-31 1h0m30 4h0m-1 11h0" stroke="#b07858" stroke-width="1.3" stroke-linecap="square"/>
<path d="M322 93h0m2 3h0m-1 2h0m2 0h0m2 2h0m85 0h0m-86 1h0m89 0h0m1 3h0m-94 1h0m97 0h0m-98 1h0m2 0h0m-4 1h0m1 0h0m13 4h0m1 3h0m3 3h0m9 14h0m-5 5h0m-3 1h0m-2 2h0m-9 4h0m243 3h0m-2 1h0m1 0h0m-247 2h0m249 1h0m4 1h0m46 11h0m-1 6h0m-1 4h0m0 1h0m-56 2h0m57 2h0m-57 9h0m56 4h0m-2 1h0m-55 2h0m26 1h0m30 3h0m-29 10h0m-28 1h0m57 1h0m2 0h0m-31 2h0m-29 14h0m60 3h0m-32 3h0m30 4h0m-57 2h0m57 5h0m-58 1h0m29 1h0m29 0h0m-29 1h0m-2 5h0m-28 4h0m1 0h0m59 1h0m-59 1h0" stroke="#e8c8a0" stroke-width="1.3" stroke-linecap="square"/>
<path d="M323 94h0m1 5h0m89 3h0m-87 1h0m-3 1h0m1 0h0m-6 3h0m3 0h0m-4 1h0m16 3h0m1 1h0m3 4h0m-2 1h0m7 11h0m-16 17h0m240 0h0m-247 4h0m254 0h0m-11 11h0m-1 10h0m0 5h0m59 6h0m-59 3h0m0 3h0m0 7h0m0 7h0m28 0h0m-1 3h0m31 4h0m-30 1h0m-28 8h0m58 2h0m-30 3h0m30 1h0m-31 2h0m-28 3h0m59 2h0m0 6h0m-1 5h0m-2 3h0m-28 1h0" stroke="#e0b090" stroke-width="1.3" stroke-linecap="square"/>
<path d="M505 99h0m-1 1h0m0 1h0m1 0h0m1 0h0m-4 1h0m1 0h0m25 1h0m6 0h0m-13 4h0m4 0h0m-1 2h0m12 0h0m-15 1h0m15 0h0m-10 1h0m1 1h0m1 0h0m3 0h0m1 0h0m-8 1h0m3 0h0m-1 5h0m-4 3h0m-25 1h0m6 0h0m18 0h0m1 0h0m-26 1h0m2 0h0m1 0h0m3 0h0m2 0h0m20 0h0m-21 1h0m-9 1h0m8 0h0m21 0h0m-235 23h0m-12 3h0m5 0h0m1 0h0m-1 1h0m1 1h0m1 0h0m0 1h0m-4 1h0m4 0h0m3 0h0m-24 2h0m31 0h0m-37 1h0m6 0h0m-10 2h0m1 0h0m1 0h0m29 0h0m4 0h0m-23 1h0m-8 2h0m8 0h0m2 0h0m15 0h0m255 0h0m2 0h0m1 0h0m2 1h0m-288 1h0m4 0h0m281 0h0m-282 1h0m1 0h0m283 1h0m5 1h0m-3 1h0m1 2h0m1 2h0m-2 1h0m7 0h0m-2 1h0m-2 1h0m5 0h0m-12 1h0m9 1h0m1 2h0m-7 1h0m9 0h0m-10 1h0m14 0h0m-2 2h0m32 64h0m2 0h0m5 3h0m-4 1h0m-187 4h0m-4 2h0m225 1h0m-223 2h0m221 0h0m-204 21h0m-102 23h0m56 9h0m1 2h0m28 0h0m-8 4h0m-25 2h0m-4 2h0m-3 1h0m2 0h0m-7 1h0m-1 1h0m4 0h0m2 1h0m4 0h0m2 0h0m2 0h0m-3 2h0m-2 1h0m-14 2h0m6 0h0m-25 6h0m2 0h0m14 0h0m-20 2h0m-1 1h0m7 0h0m3 0h0m-1 1h0m2 1h0m-11 2h0m6 1h0m-1 1h0m-3 1h0m-16 7h0m91 18h0m-4 1h0m17 1h0m-12 3h0m0 3h0m79 97h0m-1 1h0m4 1h0m-1 2h0m2 3h0m3 3h0m0 1h0m1 0h0m-1 2h0m1 1h0m3 2h0m1 1h0m-1 2h0m2 0h0m0 1h0m2 2h0m3 4h0m0 1h0m0 1h0m1 0h0m-1 1h0m-43 1h0m45 0h0m-2 1h0m-42 1h0m1 3h0m2 2h0m1 1h0m1 0h0m-1 1h0m-29 4h0m1 1h0m30 0h0m-30 2h0m33 0h0m1 0h0m-2 3h0m2 0h0m-42 1h0m10 0h0m3 0h0m-13 1h0m9 0h0m-8 2h0m10 0h0m2 0h0m-13 2h0m1 0h0m16 3h0m-1 1h0m0 1h0m1 2h0m3 0h0m-17 1h0m1 4h0m-1 4h0m1 0h0m1 2h0" stroke="#c08868" stroke-width="1.4" stroke-linecap="square"/>
<path d="M504 99h0m-4 1h0m3 0h0m21 7h0m0 1h0m4 1h0m9 0h0m-15 1h0m8 0h0m-4 1h0m2 1h0m1 1h0m-28 8h0m22 0h0m-23 1h0m21 0h0m3 0h0m-23 1h0m23 0h0m-26 1h0m3 0h0m1 0h0m-7 1h0m-209 23h0m4 0h0m0 1h0m1 1h0m-10 1h0m7 4h0m-5 3h0m1 0h0m6 0h0m-37 1h0m26 0h0m4 1h0m-29 1h0m7 1h0m279 0h0m-284 1h0m281 0h0m1 0h0m2 0h0m3 1h0m-4 1h0m2 0h0m3 0h0m-5 1h0m-282 1h0m1 0h0m1 0h0m273 0h0m8 0h0m0 1h0m2 0h0m4 0h0m-6 1h0m1 0h0m6 0h0m-292 2h0m288 1h0m-8 1h0m12 1h0m-3 1h0m1 1h0m-8 1h0m9 0h0m4 0h0m-10 1h0m7 0h0m-9 2h0m2 1h0m3 0h0m-2 1h0m8 0h0m-5 4h0m41 66h0m1 3h0m4 0h0m26 0h0m4 2h0m2 0h0m-224 1h0m-1 1h0m224 1h0m-250 9h0m22 27h0m-87 10h0m8 0h0m57 7h0m19 4h0m1 0h0m5 1h0m-29 2h0m-1 1h0m4 0h0m-11 3h0m-7 2h0m4 0h0m5 0h0m4 0h0m-21 3h0m12 0h0m1 1h0m-2 3h0m2 0h0m-12 4h0m1 0h0m-3 1h0m-18 3h0m21 0h0m-20 1h0m-1 2h0m-2 1h0m10 0h0m-9 2h0m6 0h0m70 27h0m12 1h0m-9 2h0m-7 1h0m6 1h0m1 1h0m-4 2h0m2 0h0m1 2h0m-10 5h0m0 3h0m-38 13h0m2 1h0m64 0h0m1 1h0m0 7h0m56 60h0m2 3h0m3 4h0m2 0h0m-4 1h0m2 0h0m6 7h0m0 2h0m0 2h0m6 8h0m-44 1h0m44 0h0m1 0h0m-42 3h0m44 1h0m1 2h0m1 0h0m-43 3h0m1 1h0m2 1h0m1 4h0m0 2h0m1 1h0m-29 1h0m30 0h0m1 0h0m0 2h0m1 1h0m-31 2h0m33 0h0m-2 1h0m2 0h0m1 0h0m-33 1h0m-12 1h0m2 4h0m1 0h0m14 1h0m-1 1h0m2 1h0m-15 2h0m-1 2h0m1 1h0m0 1h0m2 0h0m14 0h0m-14 2h0m16 0h0m-16 1h0m1 0h0m0 4h0m1 3h0m-1 1h0" stroke="#e8c8a0" stroke-width="1.4" stroke-linecap="square"/>
<path d="M501 100h0m1 0h0m29 1h0m-25 1h0m22 0h0m-3 4h0m-2 1h0m-3 1h0m17 1h0m1 3h0m-14 3h0m6 0h0m2 2h0m-7 4h0m-22 1h0m22 0h0m-26 1h0m26 0h0m-22 1h0m19 1h0m1 0h0m1 0h0m-25 1h0m-213 26h0m2 0h0m-12 2h0m4 0h0m7 2h0m-27 1h0m17 1h0m2 0h0m-16 1h0m-12 1h0m2 0h0m27 0h0m-25 2h0m6 0h0m21 0h0m2 0h0m256 0h0m5 1h0m-5 2h0m-280 2h0m1 0h0m284 0h0m-289 1h0m2 1h0m287 1h0m-3 1h0m0 1h0m2 0h0m-3 1h0m-5 1h0m8 0h0m-7 1h0m9 1h0m-4 5h0m10 0h0m2 0h0m-6 1h0m3 0h0m2 0h0m-3 2h0m70 69h0m-31 1h0m30 2h0m0 1h0m-29 1h0m-192 2h0m-26 9h0m45 11h0m1 0h0m-28 15h0m-19 22h0m20 0h0m0 1h0m-17 1h0m-4 1h0m-6 2h0m-6 4h0m8 0h0m-13 1h0m4 0h0m8 0h0m-14 1h0m6 0h0m5 0h0m8 0h0m-8 2h0m-30 8h0m12 2h0m0 1h0m-23 2h0m10 0h0m4 1h0m-3 1h0m-4 1h0m3 0h0m67 27h0m16 0h0m-13 9h0m1 2h0m-46 24h0m63 0h0m-63 2h0m64 0h0m1 2h0m60 68h0m3 3h0m1 2h0m1 2h0m2 4h0m1 0h0m1 3h0m-41 7h0m1 0h0m2 0h0m-2 1h0m1 0h0m45 1h0m-1 1h0m-42 1h0m44 0h0m-44 2h0m1 0h0m44 0h0m-43 1h0m44 1h0m-42 1h0m0 2h0m2 1h0m0 2h0m0 2h0m3 0h0m0 3h0m-30 3h0m0 1h0m0 2h0m-10 1h0m43 0h0m-30 1h0m-1 1h0m0 1h0m1 0h0m1 0h0m0 1h0m2 2h0m0 3h0m-11 3h0m14 0h0m-15 1h0m16 2h0m-16 1h0m16 0h0m2 1h0m-17 3h0m1 3h0m-1 3h0" stroke="#d0a080" stroke-width="1.4" stroke-linecap="square"/>
<path d="M503 99h0m2 2h0m25 0h0m-25 1h0m1 0h0m26 0h0m-30 1h0m22 1h0m1 0h0m10 1h0m-11 1h0m0 1h0m11 0h0m-10 1h0m-4 1h0m4 0h0m0 1h0m12 0h0m-15 1h0m3 0h0m6 4h0m-5 3h0m1 0h0m-26 3h0m21 1h0m3 1h0m1 0h0m-28 1h0m4 0h0m-4 1h0m2 1h0m-215 23h0m0 1h0m-1 1h0m-2 1h0m0 2h0m10 0h0m-5 1h0m-27 1h0m24 1h0m-29 1h0m30 0h0m1 0h0m-29 1h0m28 0h0m0 1h0m-24 1h0m20 0h0m1 0h0m-26 1h0m-2 1h0m290 0h0m-282 1h0m278 0h0m-5 1h0m3 0h0m1 0h0m-276 1h0m-5 1h0m1 1h0m286 0h0m-287 1h0m277 1h0m7 0h0m4 0h0m-13 1h0m3 1h0m3 0h0m6 1h0m1 0h0m-1 3h0m1 1h0m6 2h0m-4 1h0m-8 1h0m6 0h0m4 3h0m-6 2h0m1 1h0m-2 1h0m43 60h0m2 1h0m-3 1h0m6 2h0m-196 6h0m7 1h0m214 1h0m-219 38h0m-3 1h0m-87 7h0m-1 1h0m8 1h0m55 2h0m3 0h0m1 0h0m0 1h0m-2 2h0m29 3h0m-9 2h0m5 1h0m-36 5h0m1 0h0m-5 2h0m-4 1h0m1 1h0m14 0h0m-21 1h0m6 0h0m7 1h0m4 0h0m-17 1h0m-2 1h0m2 0h0m6 0h0m-8 1h0m2 0h0m9 0h0m-7 5h0m-19 1h0m1 0h0m16 0h0m2 0h0m-22 2h0m3 1h0m-6 1h0m8 0h0m-2 2h0m5 0h0m-6 2h0m70 25h0m11 4h0m3 1h0m-12 3h0m2 2h0m-1 3h0m-8 6h0m29 14h0m-1 9h0m58 61h0m-1 3h0m5 6h0m3 4h0m1 1h0m0 1h0m1 0h0m2 4h0m2 2h0m0 2h0m1 2h0m-39 2h0m-3 2h0m1 2h0m47 3h0m-39 6h0m0 2h0m2 5h0m1 1h0m1 1h0m-31 1h0m31 1h0m-30 1h0m-10 1h0m42 0h0m1 0h0m-43 3h0m0 2h0m1 0h0m1 2h0m13 1h0m-12 2h0m-1 1h0m14 0h0m1 1h0m-1 1h0m-15 1h0m17 0h0m-15 2h0m0 2h0m1 2h0m-2 2h0m2 4h0" stroke="#b07858" stroke-width="1.4" stroke-linecap="square"/>
<path d="M504 99h0m0 1h0m1 0h0m25 1h0m-28 1h0m2 0h0m25 0h0m1 0h0m-3 1h0m-23 1h0m27 0h0m-4 1h0m-2 2h0m7 0h0m-12 1h0m3 0h0m15 0h0m-7 2h0m-10 1h0m16 0h0m1 0h0m-11 1h0m-1 1h0m2 2h0m2 1h0m-5 1h0m5 0h0m-30 3h0m1 0h0m-5 1h0m1 0h0m24 0h0m-20 1h0m20 0h0m3 0h0m-27 1h0m4 0h0m20 0h0m-27 1h0m4 0h0m23 0h0m1 0h0m1 0h0m-1 1h0m2 0h0m-235 22h0m-7 5h0m0 1h0m-1 1h0m11 0h0m1 0h0m-33 2h0m2 0h0m-5 1h0m22 0h0m5 0h0m7 0h0m-35 1h0m3 1h0m26 0h0m-29 1h0m30 0h0m-1 1h0m1 0h0m-27 1h0m3 0h0m-8 1h0m2 0h0m5 0h0m4 0h0m273 0h0m-272 1h0m272 0h0m-282 1h0m6 2h0m282 1h0m-3 1h0m2 0h0m-2 1h0m5 0h0m-292 1h0m281 1h0m9 2h0m5 2h0m-11 2h0m10 2h0m0 1h0m1 0h0m4 0h0m-10 1h0m10 0h0m-11 1h0m9 0h0m-8 1h0m1 0h0m-2 2h0m2 1h0m41 65h0m31 2h0m4 1h0m2 1h0m-219 2h0m-11 2h0m-19 9h0m43 12h0m-24 16h0m-1 1h0m2 1h0m-1 1h0m-84 4h0m66 6h0m1 5h0m20 1h0m1 1h0m-21 1h0m0 1h0m16 0h0m-27 3h0m-2 2h0m6 1h0m-11 1h0m-3 1h0m14 0h0m2 0h0m-2 1h0m3 0h0m-8 1h0m1 0h0m-20 1h0m8 0h0m1 0h0m5 0h0m-4 3h0m-22 4h0m16 1h0m-22 1h0m1 0h0m2 0h0m-4 2h0m1 1h0m3 0h0m-6 1h0m0 2h0m10 0h0m-7 1h0m2 0h0m1 0h0m1 0h0m1 0h0m-6 1h0m89 25h0m-11 4h0m-2 4h0m0 1h0m-3 1h0m-41 25h0m62 0h0m2 0h0m58 70h0m1 4h0m2 1h0m2 2h0m-1 4h0m3 0h0m1 1h0m3 5h0m3 3h0m-44 4h0m43 0h0m-43 1h0m48 4h0m1 1h0m0 1h0m-43 1h0m1 0h0m0 1h0m3 5h0m0 1h0m2 1h0m6 8h0m-34 1h0m32 0h0m1 2h0m-43 2h0m1 0h0m10 0h0m1 0h0m1 0h0m-1 1h0m-13 1h0m2 0h0m12 0h0m-11 1h0m11 0h0m1 0h0m2 4h0m-11 6h0m15 1h0m-16 1h0m1 0h0m0 4h0m-1 2h0" stroke="#8a5a40" stroke-width="1.4" stroke-linecap="square"/>
<path d="M501 101h0m0 1h0m31 0h0m1 1h0m1 2h0m2 1h0m-1 1h0m-13 3h0m-1 2h0m11 0h0m-5 1h0m8 1h0m-5 3h0m1 0h0m-3 2h0m-30 2h0m1 1h0m5 0h0m-7 1h0m7 0h0m-2 1h0m20 0h0m3 0h0m-24 1h0m-4 2h0m-211 22h0m-3 2h0m6 0h0m3 1h0m-4 2h0m-4 4h0m1 0h0m-24 2h0m-7 1h0m3 0h0m283 0h0m-290 1h0m290 0h0m-278 1h0m274 1h0m7 0h0m-9 1h0m-277 1h0m284 0h0m-284 1h0m0 1h0m2 0h0m281 1h0m1 0h0m-6 1h0m11 0h0m-11 2h0m6 0h0m4 0h0m2 0h0m-11 1h0m8 1h0m1 0h0m1 1h0m-7 2h0m8 0h0m1 1h0m-6 1h0m-2 1h0m1 1h0m1 2h0m5 0h0m3 0h0m-6 1h0m1 2h0m42 62h0m29 4h0m-1 1h0m2 0h0m1 1h0m-219 4h0m-1 2h0m219 2h0m-243 7h0m-1 2h0m43 8h0m3 4h0m-4 1h0m-24 12h0m1 2h0m-1 1h0m-83 6h0m7 2h0m-2 2h0m58 2h0m1 1h0m3 0h0m-2 3h0m18 0h0m1 0h0m6 0h0m-4 4h0m-26 1h0m4 0h0m24 0h0m-31 5h0m-8 1h0m11 0h0m4 0h0m-17 1h0m17 0h0m-3 2h0m-12 2h0m1 0h0m1 1h0m-6 1h0m-29 7h0m6 0h0m-7 3h0m-1 2h0m2 0h0m8 0h0m0 1h0m-7 1h0m-17 8h0m2 2h0m103 13h0m1 0h0m0 2h0m-3 2h0m-12 1h0m15 0h0m-10 2h0m-12 16h0m0 1h0m31 16h0m57 68h0m0 1h0m-1 3h0m5 3h0m2 3h0m1 3h0m1 0h0m0 2h0m2 1h0m2 1h0m-1 1h0m1 0h0m0 1h0m1 0h0m0 2h0m2 2h0m2 2h0m-45 1h0m43 0h0m-41 2h0m0 4h0m2 4h0m8 9h0m-33 1h0m1 1h0m-9 2h0m42 0h0m2 0h0m-44 2h0m43 0h0m-30 1h0m-13 1h0m1 1h0m0 2h0m1 1h0m0 1h0m0 1h0m1 0h0m0 1h0m15 1h0m2 2h0m-1 1h0m-16 4h0m1 0h0m0 2h0m2 0h0m1 2h0" stroke="#e0b090" stroke-width="1.4" stroke-linecap="square"/>
<path d="M505 100h0m-4 1h0m32 0h0m-31 3h0m2 0h0m20 1h0m3 2h0m-8 1h0m12 1h0m3 2h0m-12 1h0m5 0h0m1 1h0m1 2h0m4 0h0m-8 2h0m5 0h0m-34 4h0m1 0h0m2 0h0m2 1h0m-5 2h0m3 0h0m2 0h0m22 0h0m2 1h0m-29 1h0m-208 23h0m1 0h0m-11 6h0m8 0h0m6 0h0m-31 1h0m20 0h0m6 0h0m6 1h0m-13 1h0m8 0h0m3 0h0m-30 1h0m-10 1h0m8 0h0m2 0h0m2 1h0m-4 1h0m281 0h0m-280 1h0m5 1h0m273 0h0m-3 1h0m4 0h0m-281 2h0m282 0h0m-284 1h0m4 0h0m280 0h0m3 0h0m2 1h0m-291 1h0m3 0h0m284 0h0m3 2h0m-1 1h0m1 0h0m2 2h0m3 0h0m-3 1h0m4 0h0m-4 1h0m2 0h0m-10 1h0m13 0h0m-10 3h0m11 0h0m-9 3h0m5 0h0m2 0h0m41 66h0m-4 2h0m31 5h0m-1 1h0m-3 1h0m-240 10h0m-65 34h0m3 2h0m-4 1h0m2 0h0m-1 3h0m60 4h0m4 0h0m-3 1h0m-1 3h0m1 0h0m2 2h0m24 1h0m-30 1h0m-2 1h0m-7 3h0m14 2h0m-3 1h0m-24 1h0m24 0h0m-10 1h0m5 0h0m-17 1h0m15 0h0m1 0h0m-9 3h0m-10 3h0m-12 2h0m14 2h0m-20 2h0m6 0h0m-5 2h0m1 0h0m-4 1h0m6 1h0m81 25h0m-10 1h0m-2 1h0m12 0h0m-13 2h0m7 1h0m0 4h0m-49 30h0m66 1h0m59 65h0m3 5h0m1 3h0m1 3h0m2 2h0m2 4h0m3 2h0m0 2h0m2 5h0m1 0h0m1 2h0m-44 1h0m1 1h0m2 1h0m2 2h0m44 1h0m-45 1h0m2 2h0m-28 8h0m1 0h0m31 0h0m-27 6h0m31 0h0m1 0h0m-32 1h0m-1 2h0m1 0h0m2 1h0m-13 1h0m15 1h0m-15 1h0m1 0h0m-1 1h0m2 6h0m17 0h0m0 1h0m-14 9h0" stroke="#a87050" stroke-width="1.4" stroke-linecap="square"/>
<path d="M447 125h0m21 0h0m-51 1h0m55 0h0m68 0h0m-129 1h0m17 0h0m52 0h0m58 1h0m-134 1h0m5 0h0m11 0h0m14 0h0m24 0h0m-59 1h0m53 0h0m17 0h0m68 0h0m-123 1h0m53 0h0m70 0h0m9 0h0m-139 1h0m40 0h0m24 0h0m1 0h0m7 0h0m55 0h0m-136 1h0m1 0h0m78 0h0m-93 1h0m82 0h0m81 0h0m-128 1h0m111 0h0m-130 1h0m26 0h0m42 0h0m1 0h0m74 0h0m1 0h0m-8 1h0m-157 1h0m41 0h0m-15 1h0m135 0h0m-163 1h0m1 0h0m161 0h0m-163 1h0m15 0h0m10 0h0m137 0h0m-2 2h0m-156 1h0m4 0h0m6 1h0m-27 1h0m6 1h0m1 4h0" stroke="#e8c8a0" stroke-width="1.6" stroke-linecap="square"/>
<path d="M433 124h0m43 0h0m-44 1h0m36 0h0m-29 1h0m3 0h0m18 0h0m-35 1h0m5 1h0m-19 1h0m7 0h0m-19 1h0m16 0h0m13 0h0m-22 1h0m7 0h0m7 0h0m-8 1h0m41 0h0m18 0h0m-40 1h0m49 0h0m-82 1h0m23 0h0m44 0h0m-30 1h0m6 0h0m7 0h0m13 0h0m1 0h0m14 0h0m-72 1h0m16 0h0m50 0h0m-73 1h0m1 0h0m65 0h0m-75 1h0m4 0h0m-17 1h0m12 0h0m26 0h0m-30 1h0m8 1h0m6 0h0m-25 3h0m1 2h0m8 2h0m-17 2h0m5 1h0" stroke="#503830" stroke-width="1.6" stroke-linecap="square"/>
<path d="M422 125h0m6 0h0m6 0h0m107 0h0m-125 1h0m7 1h0m48 0h0m2 0h0m66 0h0m-121 1h0m45 0h0m-24 1h0m30 1h0m71 0h0m-87 1h0m8 0h0m-67 1h0m1 0h0m75 0h0m8 0h0m63 0h0m-141 1h0m57 0h0m85 0h0m-150 1h0m9 0h0m138 0h0m4 0h0m-3 1h0m2 0h0m-113 1h0m29 0h0m72 0h0m-153 1h0m7 0h0m11 0h0m138 0h0m9 0h0m-162 1h0m154 0h0m-162 1h0m22 0h0m142 0h0m-130 1h0m-31 3h0m22 0h0m-24 2h0m10 0h0m-19 3h0m8 0h0" stroke="#b07858" stroke-width="1.6" stroke-linecap="square"/>
<path d="M445 124h0m10 0h0m0 1h0m23 0h0m64 1h0m-119 1h0m7 0h0m113 0h0m-122 2h0m40 0h0m79 0h0m-142 1h0m16 0h0m2 0h0m123 0h0m-71 1h0m65 0h0m-131 1h0m6 0h0m6 0h0m66 0h0m-88 1h0m8 0h0m3 0h0m55 0h0m-35 1h0m13 0h0m108 0h0m-128 1h0m23 0h0m11 0h0m23 0h0m58 0h0m13 0h0m-160 1h0m12 0h0m4 0h0m23 0h0m21 0h0m102 0h0m-5 1h0m1 0h0m2 0h0m-151 1h0m153 0h0m-158 1h0m153 1h0m-141 1h0m138 0h0m1 0h0m-160 1h0m4 4h0m-19 2h0m14 1h0m-8 2h0" stroke="#d0a080" stroke-width="1.6" stroke-linecap="square"/>
<path d="M466 125h0m13 1h0m-56 1h0m118 0h0m3 0h0m-135 1h0m28 0h0m1 0h0m6 0h0m-40 1h0m27 0h0m9 1h0m18 0h0m-8 1h0m28 0h0m57 0h0m-146 1h0m12 0h0m7 0h0m126 0h0m2 0h0m13 0h0m-154 1h0m15 0h0m2 0h0m7 0h0m113 0h0m8 0h0m-137 1h0m13 0h0m3 0h0m1 0h0m128 0h0m-18 1h0m-127 1h0m64 0h0m1 0h0m66 0h0m-59 1h0m59 0h0m2 0h0m7 0h0m-159 2h0m14 0h0m18 0h0m-33 1h0m5 0h0m-18 2h0m168 0h0m-165 1h0m163 0h0m-153 1h0m-16 3h0m20 0h0m-19 2h0m-5 1h0" stroke="#e0b090" stroke-width="1.6" stroke-linecap="square"/>
<path d="M454 124h0m-30 1h0m56 0h0m-58 1h0m40 0h0m1 0h0m10 0h0m-39 1h0m106 0h0m-88 1h0m1 0h0m27 0h0m65 0h0m-108 1h0m2 0h0m20 0h0m-20 1h0m-45 1h0m7 0h0m20 0h0m126 0h0m-156 1h0m37 0h0m45 0h0m4 0h0m4 0h0m53 0h0m7 0h0m-155 1h0m23 0h0m20 0h0m50 0h0m53 0h0m1 0h0m5 0h0m-93 1h0m87 0h0m14 0h0m1 0h0m-163 1h0m4 0h0m47 0h0m13 0h0m81 0h0m1 0h0m-106 1h0m9 0h0m28 0h0m68 0h0m1 0h0m11 0h0m3 0h0m-128 1h0m7 0h0m111 0h0m3 0h0m7 0h0m-161 1h0m30 0h0m127 0h0m-159 1h0m21 1h0m-3 2h0m-3 1h0m-8 2h0m-12 1h0m5 3h0m-18 1h0m3 0h0m4 1h0" stroke="#a87050" stroke-width="1.6" stroke-linecap="square"/>
<path d="M435 125h0m8 0h0m100 0h0m-77 1h0m-53 1h0m63 0h0m-26 1h0m-49 1h0m139 0h0m-95 1h0m-48 1h0m52 0h0m-55 1h0m23 0h0m33 0h0m2 0h0m83 0h0m7 0h0m-138 1h0m23 0h0m106 0h0m8 0h0m-149 1h0m29 0h0m32 0h0m90 0h0m-124 1h0m4 0h0m20 0h0m87 0h0m13 0h0m-158 1h0m56 0h0m89 0h0m-115 2h0m1 0h0m126 0h0m-144 1h0m-28 1h0m14 0h0m-4 2h0m157 0h0m-166 1h0m19 0h0m-23 2h0m167 0h0m-169 6h0" stroke="#8a5a40" stroke-width="1.6" stroke-linecap="square"/>
<path d="M424 124h0m117 0h0m-95 1h0m23 1h0m72 0h0m-117 1h0m43 0h0m-32 1h0m8 0h0m24 0h0m76 0h0m-128 1h0m31 0h0m14 1h0m1 0h0m87 0h0m-143 1h0m7 0h0m19 1h0m103 0h0m8 0h0m-127 1h0m6 0h0m34 0h0m77 0h0m-106 1h0m13 0h0m24 0h0m2 0h0m66 0h0m10 0h0m-155 1h0m66 0h0m83 0h0m-137 1h0m2 0h0m3 0h0m15 0h0m57 0h0m-79 1h0m84 0h0m-97 1h0m152 0h0m-135 1h0m12 0h0m-11 1h0m10 0h0m-41 1h0m-2 2h0m12 0h0m12 0h0m5 0h0m138 0h0m0 1h0m-148 1h0m5 1h0m-10 2h0" stroke="#c08868" stroke-width="1.6" stroke-linecap="square"/>
<path d="M532 101h0m-3 1h0m-1 1h0m1 0h0m-6 2h0m12 1h0m-13 1h0m1 0h0m12 0h0m1 1h0m-15 1h0m2 0h0m1 0h0m1 0h0m1 0h0m12 0h0m-11 3h0m0 1h0m-4 1h0m7 0h0m-5 2h0m4 0h0m-3 1h0m5 0h0m47 43h0m-38 1h0m35 0h0m-33 1h0m28 0h0m-28 1h0m33 0h0m-37 1h0m33 0h0m-32 1h0m32 0h0m10 0h0m-40 1h0m31 1h0m-4 1h0m7 0h0m9 0h0m-51 1h0m1 0h0m50 0h0m-51 1h0m10 0h0m4 0h0m30 0h0m1 0h0m-44 1h0m8 0h0m3 2h0m3 0h0m21 1h0m6 0h0m1 0h0m0 1h0m-31 1h0m29 0h0m-23 3h0m-10 2h0m4 0h0m8 0h0m-4 1h0m4 0h0m-10 4h0m2 0h0" stroke="#d8c0a0" stroke-width="1.4" stroke-linecap="square"/>
<path d="M529 102h0m1 0h0m-3 2h0m-4 2h0m1 0h0m-2 1h0m-1 3h0m8 0h0m-3 1h0m-2 1h0m5 0h0m2 0h0m3 0h0m-10 7h0m18 42h0m34 2h0m-40 1h0m2 0h0m1 0h0m1 0h0m-1 1h0m4 0h0m20 1h0m-23 1h0m3 0h0m3 0h0m27 0h0m-39 1h0m6 0h0m37 0h0m-36 1h0m1 0h0m31 0h0m-27 1h0m1 0h0m32 1h0m3 0h0m-9 1h0m-37 1h0m8 0h0m1 0h0m23 0h0m6 1h0m-30 1h0m6 0h0m19 0h0m7 0h0m-4 1h0m-31 3h0m6 0h0m4 0h0m1 1h0m1 0h0m-6 1h0m2 0h0m-7 1h0" stroke="#c8b090" stroke-width="1.4" stroke-linecap="square"/>
<path d="M532 102h0m1 0h0m-6 2h0m7 1h0m-10 1h0m13 2h0m-17 2h0m6 1h0m8 0h0m-6 1h0m3 3h0m10 46h0m34 0h0m-36 2h0m1 0h0m2 0h0m-6 2h0m39 0h0m-36 1h0m6 0h0m36 0h0m-49 1h0m45 0h0m-37 1h0m30 0h0m-36 1h0m50 0h0m-49 1h0m11 0h0m30 0h0m4 0h0m-45 1h0m7 0h0m41 0h0m-41 1h0m1 1h0m1 1h0m2 0h0m-9 1h0m7 0h0m5 0h0m-2 2h0m-8 1h0m7 0h0m-6 1h0m3 6h0" stroke="#8a6a50" stroke-width="1.4" stroke-linecap="square"/>
<path d="M533 100h0m-6 3h0m7 1h0m1 0h0m-1 1h0m-10 2h0m11 0h0m-4 1h0m5 0h0m-16 1h0m1 0h0m14 0h0m1 0h0m-15 1h0m4 0h0m6 1h0m-7 2h0m4 0h0m5 0h0m-10 1h0m5 0h0m2 3h0m12 45h0m1 1h0m-7 1h0m39 0h0m5 0h0m-46 1h0m5 0h0m1 0h0m-1 1h0m35 0h0m-5 1h0m8 0h0m-35 1h0m37 0h0m3 0h0m-41 1h0m1 0h0m36 0h0m5 0h0m-9 1h0m1 0h0m-5 1h0m6 0h0m2 0h0m-35 1h0m28 0h0m-26 1h0m-1 1h0m30 1h0m-30 1h0m3 0h0m23 0h0m-32 1h0m6 0h0m26 0h0m-24 2h0m1 0h0m1 0h0m-1 1h0m1 1h0m-4 4h0" stroke="#6a5040" stroke-width="1.4" stroke-linecap="square"/>
<path d="M536 129h0m0 1h0m3 0h0m-3 1h0m-4 2h0m9 0h0m-1 1h0m-6 1h0m9 0h0m3 0h0m1 0h0m-15 1h0m12 0h0m-1 2h0" stroke="#e0d0b0" stroke-width="1.6" stroke-linecap="square"/>
<path d="M879 57h0m3 2h0m-8 2h0m-16 3h0m-3 1h0m8 0h0m9 1h0m1 0h0m-4 1h0m-5 3h0m-27 1h0m2 0h0m10 0h0m3 0h0m-13 1h0m3 0h0m-4 2h0m6 1h0m-16 2h0m0 1h0m2 0h0m-16 2h0m6 0h0m-11 1h0m9 0h0m10 0h0m-179 1h0m160 0h0m3 1h0m-168 2h0m161 0h0m-151 1h0m2 0h0m153 0h0m-145 1h0m3 0h0m10 2h0m-15 1h0m8 1h0m121 0h0m3 0h0m10 0h0m10 0h0m-35 1h0m18 0h0m-30 1h0m16 0h0m25 0h0m-151 1h0m105 0h0m29 0h0m-112 1h0m107 1h0m1 1h0m-100 1h0m59 0h0m31 0h0m-120 1h0m15 0h0m6 0h0m15 0h0m87 0h0m-92 1h0m10 0h0m84 0h0m-50 1h0m32 0h0m-79 1h0m5 0h0m2 0h0m10 0h0m10 0h0m4 0h0m-20 1h0m2 0h0m-1 1h0m37 1h0m-41 1h0m42 0h0m-34 1h0m-3 4h0m9 0h0m-164 15h0m-4 3h0m8 0h0m-13 1h0m0 1h0m7 0h0m7 0h0m-6 7h0m-1 1h0m1 0h0m-4 2h0" stroke="#c8b090" stroke-width="1.6" stroke-linecap="square"/>
<path d="M879 61h0m-10 1h0m8 0h0m-11 1h0m0 1h0m10 0h0m-6 1h0m10 0h0m-21 1h0m-6 1h0m13 0h0m-3 1h0m-3 1h0m-7 1h0m-2 1h0m5 0h0m-9 1h0m-21 1h0m21 0h0m1 1h0m-27 3h0m7 0h0m2 0h0m-6 2h0m11 0h0m-1 1h0m-13 2h0m8 0h0m-23 4h0m-147 2h0m150 0h0m4 0h0m6 0h0m-20 1h0m12 0h0m2 0h0m-150 1h0m130 0h0m-145 1h0m11 0h0m7 0h0m88 0h0m46 2h0m-4 1h0m-125 1h0m117 0h0m6 0h0m-60 1h0m22 0h0m-52 1h0m54 0h0m11 0h0m7 1h0m-98 1h0m79 0h0m-23 1h0m31 0h0m3 0h0m-9 1h0m-83 1h0m3 0h0m7 0h0m1 0h0m42 0h0m16 0h0m-56 1h0m21 0h0m-14 1h0m13 0h0m-22 1h0m21 1h0m53 1h0m-64 1h0m14 0h0m-168 17h0m-1 1h0m-2 2h0m0 1h0m-3 1h0m2 0h0m2 0h0m3 0h0m3 1h0m-7 3h0m2 0h0m-2 1h0m1 0h0m-11 1h0m13 0h0m-1 1h0m-7 1h0m4 2h0m-1 1h0" stroke="#d8c0a0" stroke-width="1.6" stroke-linecap="square"/>
<path d="M543 126h0m-7 4h0m3 0h0m-4 1h0m11 0h0m-7 1h0m3 0h0m-9 1h0m7 0h0m8 0h0m-18 1h0m17 0h0m-2 1h0m-1 1h0m-9 2h0m6 0h0m3 0h0m-7 4h0" stroke="#8a7458" stroke-width="1.6" stroke-linecap="square"/>
<path d="M542 127h0m-3 3h0m-4 1h0m0 1h0m1 0h0m5 0h0m1 0h0m1 2h0m3 0h0m-12 1h0m2 0h0m6 0h0m0 1h0m0 1h0m2 1h0m1 0h0m-10 6h0" stroke="#b89c74" stroke-width="1.6" stroke-linecap="square"/>
<path d="M544 127h0m-4 3h0m6 0h0m1 0h0m-12 1h0m-1 1h0m1 0h0m4 0h0m5 0h0m-10 1h0m5 1h0m1 0h0m7 1h0m-11 2h0m6 0h0m4 0h0m-7 2h0m6 0h0m-5 2h0m-2 1h0" stroke="#c0a880" stroke-width="1.6" stroke-linecap="square"/>
<path d="M867 60h0m9 1h0m1 1h0m-15 2h0m-5 2h0m-19 2h0m16 1h0m7 0h0m-5 3h0m4 0h0m-8 1h0m0 1h0m-23 1h0m7 0h0m5 2h0m-22 5h0m-170 1h0m2 0h0m162 0h0m-8 1h0m4 0h0m-7 1h0m8 1h0m7 0h0m3 0h0m-171 2h0m160 0h0m-154 1h0m4 0h0m1 0h0m1 1h0m137 0h0m15 0h0m-155 1h0m10 0h0m-22 1h0m19 1h0m119 0h0m21 0h0m-11 1h0m-130 1h0m83 0h0m20 0h0m-29 1h0m30 0h0m6 1h0m-100 1h0m86 0h0m17 0h0m13 1h0m-95 1h0m57 0h0m15 0h0m-31 1h0m3 0h0m-62 1h0m4 0h0m13 0h0m13 0h0m11 0h0m5 0h0m-12 2h0m12 0h0m-4 4h0m7 0h0m10 0h0m-30 1h0m25 1h0m-196 19h0m11 1h0m-5 1h0m1 1h0m1 1h0m-12 1h0m11 0h0m1 0h0m-7 2h0m10 0h0m-5 3h0m161 466h0m14 0h0m34 0h0m-44 1h0m30 0h0m1 0h0m-37 1h0m18 0h0m21 0h0m2 1h0m-44 1h0m3 0h0m5 0h0m17 0h0m4 0h0m12 0h0m2 0h0m12 0h0m-51 1h0m3 0h0m9 0h0m12 0h0m15 0h0m14 0h0m-37 1h0m9 0h0m-17 1h0m-2 2h0m14 0h0m22 0h0m13 0h0m-48 1h0m2 1h0m4 0h0m5 0h0m4 0h0m27 0h0m1 0h0m-50 1h0m2 0h0m5 0h0m7 0h0m9 0h0m6 0h0m9 0h0m1 1h0m2 1h0m5 0h0m2 0h0m-48 1h0m27 0h0m-27 1h0m15 0h0m-11 1h0m11 0h0m3 0h0m2 1h0m-10 1h0m7 0h0m7 0h0m22 0h0m-46 1h0m6 0h0m0 1h0m2 0h0m5 0h0m1 0h0m5 0h0m19 0h0m8 0h0m-29 1h0m9 0h0m5 0h0m-28 1h0m1 0h0m6 0h0m19 1h0m8 0h0m14 0h0m-77 8h0m1 1h0m-2 1h0m0 1h0m1 0h0m1 0h0m-1 1h0m1 0h0m-1 1h0m1 0h0m-3 1h0m2 0h0m1 1h0m0 2h0m1 0h0m1 1h0m0 2h0m-2 1h0m1 1h0m1 0h0m1 0h0m-2 1h0m0 1h0m1 0h0m0 2h0m1 4h0m-2 1h0m1 0h0m0 3h0m1 1h0m-1 1h0m2 0h0m1 0h0m-2 1h0m1 0h0m-1 1h0m0 1h0m0 1h0m3 1h0m-4 1h0m2 0h0m1 1h0m-2 1h0m1 0h0m-1 2h0m1 0h0m0 1h0m2 0h0m1 0h0m-2 1h0m-2 2h0m2 0h0m-1 2h0m0 1h0m1 0h0m0 1h0m0 1h0" stroke="#6a5040" stroke-width="1.6" stroke-linecap="square"/>
<path d="M880 59h0m-5 1h0m11 0h0m-13 4h0m-20 1h0m18 0h0m-7 1h0m-19 1h0m6 0h0m1 0h0m13 0h0m-18 4h0m10 1h0m-13 2h0m1 1h0m-16 2h0m13 0h0m-18 1h0m7 1h0m-6 2h0m-22 1h0m16 2h0m-15 2h0m3 0h0m7 0h0m-156 2h0m126 0h0m28 1h0m-159 1h0m148 0h0m-139 1h0m143 0h0m-8 1h0m-10 1h0m6 0h0m8 0h0m-124 1h0m88 0h0m35 0h0m-142 1h0m9 0h0m12 0h0m55 0h0m46 0h0m-22 1h0m4 0h0m12 0h0m18 0h0m-121 1h0m10 0h0m90 0h0m-14 1h0m14 0h0m24 0h0m-112 1h0m93 0h0m-93 1h0m59 0h0m4 0h0m32 0h0m-102 1h0m27 0h0m74 0h0m-48 1h0m43 0h0m-66 1h0m-23 1h0m9 0h0m7 0h0m19 1h0m28 0h0m-41 1h0m-2 1h0m1 1h0m7 0h0m10 0h0m-25 3h0m-159 19h0m3 0h0m-6 2h0m14 1h0m-17 2h0m0 1h0m14 0h0m-4 1h0m1 0h0m-2 2h0" stroke="#a08060" stroke-width="1.6" stroke-linecap="square"/>
<path d="M865 61h0m3 0h0m3 0h0m2 2h0m-1 1h0m-2 1h0m-26 1h0m16 1h0m2 0h0m-17 4h0m6 0h0m-9 4h0m1 1h0m-7 1h0m-11 1h0m1 1h0m1 2h0m-1 2h0m0 1h0m-179 1h0m-1 2h0m22 0h0m-12 1h0m131 3h0m6 0h0m-127 1h0m8 0h0m127 0h0m10 0h0m-54 1h0m-79 1h0m89 0h0m14 2h0m4 0h0m17 0h0m-123 1h0m90 0h0m16 0h0m-15 1h0m8 1h0m-90 1h0m21 0h0m3 0h0m47 0h0m-70 1h0m3 0h0m22 0h0m32 0h0m11 0h0m-73 1h0m73 1h0m15 0h0m-68 1h0m-8 1h0m48 2h0m-50 1h0m11 0h0m20 0h0m-185 22h0m0 1h0m6 0h0m-14 3h0m0 1h0m8 0h0m3 1h0m-7 1h0m9 0h0" stroke="#8a6a50" stroke-width="1.6" stroke-linecap="square"/>
<path d="M886 54h0m-8 1h0m7 4h0m6 1h0m-13 1h0m-14 1h0m12 1h0m-13 1h0m24 0h0m-26 1h0m7 0h0m13 1h0m-25 1h0m-10 1h0m6 0h0m1 1h0m2 0h0m-5 1h0m6 0h0m-9 3h0m9 0h0m-15 3h0m-6 2h0m-11 1h0m0 1h0m-3 2h0m-3 2h0m-151 1h0m154 0h0m-167 2h0m4 0h0m1 0h0m7 1h0m135 0h0m17 0h0m-23 2h0m9 0h0m-15 1h0m14 0h0m-139 1h0m1 1h0m129 0h0m-129 1h0m9 0h0m3 1h0m8 1h0m70 0h0m14 0h0m23 0h0m-38 1h0m16 0h0m6 0h0m-68 1h0m49 0h0m-68 1h0m55 0h0m40 0h0m-69 1h0m36 0h0m-78 1h0m78 0h0m4 0h0m5 0h0m14 0h0m-28 1h0m-42 1h0m25 0h0m3 0h0m-37 1h0m7 0h0m35 0h0m3 0h0m-28 1h0m4 0h0m14 0h0m7 0h0m18 0h0m-35 1h0m45 0h0m-63 1h0m28 1h0m-27 3h0m-166 20h0m2 0h0m2 0h0m0 1h0m-7 1h0m11 0h0m-4 4h0m-6 1h0m7 0h0m-1 1h0m4 0h0m-7 2h0" stroke="#b89878" stroke-width="1.6" stroke-linecap="square"/>
<path d="M538 129h0m-4 1h0m13 1h0m-6 1h0m-4 1h0m1 0h0m1 0h0m5 0h0m-13 3h0m8 1h0m-7 1h0m6 0h0m5 0h0m1 0h0m1 0h0" stroke="#a89070" stroke-width="1.6" stroke-linecap="square"/>
<path d="M546 130h0m-8 2h0m4 0h0m1 0h0m5 0h0m-9 1h0m-5 1h0m8 0h0m4 0h0m-16 1h0m11 1h0m4 0h0m1 0h0m-11 1h0m7 1h0m1 0h0m-4 4h0" stroke="#d0b890" stroke-width="1.6" stroke-linecap="square"/>
<path d="M544 135h0m-1 7h0m5 0h0m-7 3h0m1 1h0m1 1h0m4 4h0m-1 6h0m-3 6h0m1 0h0m-2 2h0m2 12h0m-302 252h0m-1 2h0m2 0h0m-1 1h0m327 23h0m-28 4h0m14 0h0m-94 1h0m81 0h0m11 0h0m-14 1h0m3 0h0m29 0h0m-115 1h0m2 0h0m-4 2h0m102 0h0m-40 1h0m25 0h0m-289 2h0m1 0h0m194 0h0m100 1h0m-299 1h0m216 0h0m53 0h0m-67 3h0m17 0h0m34 0h0m42 0h0m-82 1h0m-2 1h0m61 0h0m-7 2h0m11 2h0m-15 1h0m-255 1h0m250 0h0m5 0h0m10 0h0m9 0h0m-274 1h0m250 1h0m7 0h0m8 0h0m-269 1h0m256 0h0m4 0h0m0 2h0m-237 3h0m2 0h0m218 0h0m20 0h0m2 0h0m-242 1h0m1 0h0m3 0h0m212 0h0m1 0h0m-215 1h0m1 0h0m209 1h0m3 0h0m-214 1h0m209 0h0m-210 1h0m1 0h0m214 1h0m-3 1h0m0 1h0m-219 1h0m227 0h0m-10 2h0m10 1h0m-29 2h0m27 0h0m-6 2h0m-210 2h0m204 0h0m3 0h0m-22 2h0m7 1h0m23 0h0m1 0h0m-92 1h0m82 0h0m7 0h0m-98 1h0m2 0h0m7 0h0m67 0h0m-76 1h0m6 0h0m67 0h0m19 0h0m4 0h0m-27 1h0m-169 1h0m2 0h0m3 0h0m96 0h0m4 0h0m76 0h0m-75 1h0m48 0h0m8 0h0m-60 1h0m72 0h0m-170 2h0m170 0h0m-172 1h0m183 0h0m-183 1h0m159 0h0m8 1h0m2 0h0m10 0h0m-13 1h0m10 0h0m-12 2h0m10 0h0m-7 4h0m-163 5h0m1 1h0m-4 3h0m127 0h0m-178 1h0m175 0h0m-2 1h0m-170 1h0m170 0h0m1 0h0m-174 1h0m3 0h0m168 0h0m2 0h0m6 0h0m-179 1h0m4 0h0m164 0h0m6 0h0m-171 1h0m161 0h0m10 0h0m3 0h0m-5 1h0m3 0h0m3 0h0m3 0h0m-11 1h0m6 0h0m5 0h0m-11 1h0m1 0h0m5 0h0m1 0h0m4 0h0m-120 1h0m5 0h0m103 0h0m1 0h0m-110 1h0m2 0h0m2 0h0m107 0h0m8 0h0m-167 1h0m1 0h0m42 0h0m9 0h0m1 0h0m4 0h0m1 0h0m102 0h0m-119 1h0m1 0h0m14 0h0m109 0h0m-166 1h0m3 0h0m38 0h0m121 0h0m6 0h0m-130 1h0m1 0h0m15 0h0m11 0h0m-65 1h0m34 0h0m4 0h0m122 0h0m2 0h0m2 0h0m-5 1h0m4 0h0m-104 1h0m101 0h0m4 0h0m1 0h0m-104 1h0m104 0h0m1 0h0m-105 1h0m6 0h0m-15 1h0m3 0h0m-3 1h0m4 0h0m8 0h0m-11 1h0m13 0h0m-13 1h0m1 0h0m6 0h0m6 0h0m-12 1h0m31 4h0m-13 1h0m14 0h0m0 1h0m-11 2h0m-1 1h0m14 2h0m-12 1h0m1 0h0m2 2h0m0 2h0m-50 1h0m0 1h0m57 0h0m-59 1h0m1 0h0m50 0h0m7 0h0m2 0h0m-62 1h0m62 1h0m5 0h0m-70 1h0m1 0h0m57 0h0m8 0h0m3 0h0m-73 1h0m1 0h0m1 1h0m57 0h0m2 0h0m9 0h0m-11 1h0m2 0h0m7 0h0m1 0h0m-1 1h0m1 0h0m1 0h0m-11 6h0m0 1h0m-6 3h0m2 1h0m-4 1h0m-1 1h0m-48 1h0m45 0h0m1 0h0m-51 2h0m1 1h0m18 4h0m1 0h0m3 0h0m-6 2h0m3 0h0m-3 1h0" stroke="#b07858" stroke-width="1.5" stroke-linecap="square"/>
<path d="M543 135h0m4 1h0m-1 3h0m0 15h0m-5 3h0m5 3h0m1 1h0m-2 1h0m0 4h0m-2 1h0m5 24h0m-309 238h0m2 0h0m0 1h0m1 1h0m0 3h0m308 19h0m4 1h0m-9 2h0m29 0h0m-34 3h0m0 1h0m12 0h0m2 0h0m-95 1h0m96 0h0m12 0h0m-30 1h0m33 0h0m-47 1h0m-1 1h0m1 0h0m14 0h0m1 1h0m1 0h0m6 0h0m-25 2h0m4 0h0m10 0h0m-283 1h0m1 0h0m264 0h0m20 0h0m-290 1h0m3 0h0m-3 1h0m202 0h0m14 0h0m2 0h0m61 1h0m10 0h0m-74 1h0m39 0h0m-38 1h0m45 0h0m29 0h0m-27 2h0m-57 1h0m2 0h0m-2 1h0m64 0h0m11 0h0m-22 1h0m16 1h0m8 0h0m-12 1h0m-266 2h0m2 0h0m265 0h0m-14 1h0m-256 1h0m274 0h0m-11 1h0m9 0h0m-249 2h0m241 1h0m-4 1h0m-233 3h0m210 1h0m4 0h0m3 2h0m-225 1h0m222 1h0m7 0h0m-14 1h0m8 0h0m-3 1h0m5 0h0m4 0h0m1 0h0m-20 2h0m11 0h0m4 1h0m4 0h0m-31 1h0m24 0h0m3 0h0m2 2h0m-220 1h0m119 0h0m65 0h0m9 0h0m20 0h0m6 0h0m-219 1h0m223 0h0m-103 1h0m70 0h0m4 0h0m14 0h0m8 0h0m-98 1h0m5 0h0m0 2h0m85 0h0m-88 1h0m69 0h0m8 0h0m-181 1h0m1 0h0m104 0h0m-103 1h0m1 0h0m5 0h0m93 0h0m62 0h0m-158 1h0m4 0h0m94 0h0m53 0h0m-153 2h0m1 0h0m153 0h0m-154 1h0m169 0h0m-6 1h0m5 0h0m-216 1h0m44 0h0m2 0h0m1 0h0m179 0h0m-227 1h0m45 0h0m163 3h0m2 2h0m6 2h0m-3 1h0m-160 5h0m122 2h0m-2 1h0m-123 1h0m120 0h0m3 0h0m2 0h0m-174 2h0m1 0h0m168 0h0m1 0h0m-169 1h0m2 0h0m161 0h0m4 0h0m8 0h0m-12 1h0m1 0h0m7 2h0m2 1h0m-7 1h0m-101 1h0m107 0h0m1 0h0m3 0h0m-117 1h0m1 0h0m4 0h0m1 0h0m102 0h0m6 0h0m-167 1h0m55 0h0m108 0h0m1 0h0m4 0h0m-167 1h0m49 0h0m2 0h0m4 0h0m1 0h0m105 0h0m6 0h0m4 0h0m-120 1h0m2 0h0m106 0h0m5 0h0m1 0h0m2 0h0m1 0h0m-168 1h0m38 0h0m1 0h0m13 0h0m110 0h0m-124 1h0m27 0h0m97 0h0m1 0h0m3 0h0m-104 1h0m4 1h0m1 0h0m92 0h0m1 0h0m4 0h0m-103 1h0m7 2h0m-15 1h0m1 0h0m7 0h0m1 0h0m4 0h0m2 0h0m-12 1h0m11 0h0m1 0h0m-13 1h0m1 0h0m7 0h0m-3 1h0m2 0h0m1 0h0m-5 1h0m4 0h0m21 0h0m2 2h0m1 4h0m-11 1h0m11 1h0m1 2h0m-11 1h0m1 2h0m-52 5h0m2 0h0m-1 1h0m-3 2h0m59 0h0m8 0h0m-9 1h0m-4 1h0m3 0h0m1 0h0m3 0h0m5 0h0m1 0h0m-3 1h0m2 0h0m-2 1h0m-4 2h0m-3 2h0m-1 2h0m0 1h0m-5 1h0m-3 2h0m1 0h0m-48 2h0m-5 3h0m-3 1h0m23 4h0m-9 3h0m2 0h0m2 0h0" stroke="#d0a080" stroke-width="1.5" stroke-linecap="square"/>
<path d="M543 136h0m5 2h0m-1 12h0m1 10h0m-1 1h0m-2 4h0m-1 3h0m4 6h0m-4 2h0m24 278h0m5 1h0m-7 1h0m-11 1h0m20 0h0m1 0h0m-15 1h0m10 0h0m1 0h0m-16 1h0m-16 1h0m26 0h0m-24 1h0m-86 1h0m83 0h0m32 0h0m2 0h0m-113 2h0m2 0h0m73 0h0m-72 1h0m-209 1h0m198 0h0m88 0h0m8 0h0m-296 1h0m201 0h0m93 0h0m1 0h0m-23 1h0m-69 1h0m7 0h0m-216 1h0m289 0h0m8 0h0m-82 2h0m45 0h0m-56 1h0m1 0h0m86 0h0m-76 1h0m56 0h0m-5 1h0m7 0h0m-68 1h0m57 0h0m14 0h0m5 0h0m-18 3h0m10 0h0m1 0h0m-11 2h0m-253 1h0m261 0h0m-269 1h0m3 0h0m-2 1h0m262 0h0m-5 1h0m-236 1h0m2 1h0m1 0h0m234 1h0m3 2h0m-236 1h0m1 0h0m0 1h0m207 0h0m-212 1h0m215 0h0m-214 1h0m0 1h0m-3 1h0m1 0h0m-2 1h0m1 0h0m223 3h0m0 3h0m-12 1h0m18 0h0m-35 1h0m19 0h0m-206 1h0m1 0h0m190 0h0m22 0h0m1 0h0m-214 1h0m119 0h0m86 0h0m-82 1h0m62 0h0m7 0h0m17 0h0m-93 1h0m2 0h0m65 0h0m1 0h0m-63 1h0m65 0h0m3 0h0m-4 1h0m-172 1h0m102 0h0m1 0h0m71 0h0m7 0h0m-178 1h0m-5 1h0m13 0h0m155 0h0m10 0h0m-168 1h0m1 0h0m1 0h0m101 0h0m-101 1h0m97 0h0m4 0h0m66 0h0m7 0h0m-178 1h0m170 0h0m-8 1h0m19 0h0m-184 1h0m165 0h0m-214 1h0m5 0h0m43 0h0m1 0h0m182 0h0m-232 1h0m49 0h0m167 0h0m6 0h0m6 0h0m2 0h0m-231 1h0m2 0h0m208 0h0m1 2h0m7 0h0m2 1h0m1 0h0m0 1h0m1 0h0m-2 1h0m-5 2h0m-161 7h0m2 0h0m-55 1h0m4 1h0m172 0h0m-172 1h0m174 0h0m-180 1h0m4 0h0m173 0h0m3 0h0m-4 1h0m2 0h0m-172 1h0m-4 1h0m1 0h0m166 0h0m4 0h0m2 0h0m4 0h0m-176 1h0m173 0h0m2 1h0m1 0h0m-114 1h0m2 0h0m2 0h0m2 0h0m108 0h0m7 0h0m-123 1h0m1 0h0m3 0h0m4 0h0m108 0h0m1 0h0m2 0h0m-11 1h0m2 0h0m3 0h0m3 0h0m-122 1h0m8 0h0m3 0h0m3 0h0m109 0h0m-122 1h0m5 0h0m5 0h0m2 0h0m110 0h0m6 0h0m-133 1h0m2 0h0m3 0h0m8 0h0m5 0h0m104 0h0m-162 1h0m1 0h0m38 0h0m3 0h0m-40 1h0m34 0h0m30 0h0m100 0h0m3 1h0m-108 1h0m3 0h0m97 0h0m5 0h0m-107 1h0m4 1h0m5 1h0m-15 1h0m5 0h0m-4 1h0m9 0h0m4 0h0m3 0h0m-15 1h0m9 0h0m0 1h0m3 0h0m-6 1h0m3 0h0m-3 1h0m25 0h0m-29 1h0m29 2h0m-12 1h0m1 2h0m13 1h0m-11 2h0m0 2h0m2 1h0m1 0h0m-2 1h0m-48 2h0m-1 2h0m53 0h0m-57 1h0m0 1h0m60 1h0m7 0h0m-69 1h0m64 0h0m5 0h0m-2 2h0m-5 1h0m0 2h0m-1 1h0m2 0h0m-6 1h0m-3 2h0m1 0h0m-7 4h0m-46 1h0m46 0h0m-49 2h0m2 0h0m-6 1h0m2 0h0m1 0h0m46 0h0m0 1h0m-34 8h0" stroke="#e0b090" stroke-width="1.5" stroke-linecap="square"/>
<path d="M547 141h0m-5 3h0m0 1h0m-1 3h0m5 0h0m-5 6h0m6 0h0m-4 1h0m1 1h0m-1 1h0m3 0h0m-3 6h0m2 3h0m1 3h0m-304 263h0m1 0h0m310 22h0m-7 3h0m22 0h0m2 1h0m-16 1h0m-93 1h0m81 0h0m34 0h0m-23 1h0m-101 1h0m3 0h0m82 0h0m6 0h0m14 0h0m1 0h0m-99 1h0m-10 1h0m85 0h0m3 0h0m-88 1h0m94 0h0m-291 1h0m-4 1h0m211 0h0m81 0h0m-287 1h0m195 0h0m74 0h0m18 0h0m-27 1h0m-266 1h0m206 0h0m14 0h0m47 0h0m20 0h0m-84 1h0m13 0h0m63 0h0m-66 3h0m49 0h0m-55 1h0m48 0h0m26 1h0m-1 1h0m-11 1h0m3 0h0m10 0h0m-16 2h0m0 1h0m3 0h0m13 0h0m1 0h0m-279 2h0m255 0h0m15 0h0m-273 1h0m271 0h0m2 0h0m4 0h0m-254 2h0m3 3h0m220 0h0m14 0h0m-23 2h0m1 0h0m2 0h0m-214 1h0m217 0h0m-220 1h0m209 0h0m-207 1h0m204 0h0m9 0h0m2 0h0m-13 1h0m2 5h0m1 0h0m4 0h0m11 0h0m2 1h0m-7 2h0m5 0h0m-29 2h0m24 0h0m-212 1h0m119 0h0m71 0h0m-190 1h0m1 0h0m117 0h0m93 0h0m5 1h0m-99 1h0m2 1h0m66 1h0m-174 1h0m1 0h0m176 0h0m-175 1h0m4 0h0m172 0h0m17 0h0m-186 1h0m163 0h0m6 0h0m-170 1h0m2 0h0m1 0h0m100 0h0m48 0h0m13 0h0m-66 1h0m60 0h0m-60 1h0m62 0h0m10 0h0m3 0h0m5 0h0m-179 2h0m156 0h0m8 0h0m-214 1h0m1 0h0m1 0h0m43 0h0m169 0h0m-3 1h0m-5 4h0m16 0h0m-11 1h0m2 3h0m3 0h0m-165 6h0m1 0h0m-2 1h0m-50 1h0m51 0h0m122 0h0m1 0h0m1 1h0m-177 1h0m169 0h0m9 0h0m0 1h0m-180 1h0m2 0h0m5 0h0m163 0h0m3 0h0m3 0h0m3 0h0m-174 1h0m174 0h0m-176 1h0m173 0h0m1 0h0m5 0h0m-5 1h0m2 0h0m1 0h0m2 0h0m-116 1h0m112 0h0m-115 1h0m5 0h0m1 0h0m1 0h0m111 0h0m-115 1h0m112 0h0m1 0h0m1 0h0m2 0h0m-112 1h0m101 0h0m1 0h0m1 0h0m1 0h0m2 0h0m1 0h0m2 0h0m-124 1h0m12 0h0m3 0h0m101 0h0m1 0h0m4 0h0m1 0h0m4 0h0m3 0h0m-131 1h0m2 0h0m1 0h0m7 0h0m4 0h0m5 0h0m102 0h0m3 0h0m2 0h0m-168 1h0m39 0h0m16 0h0m109 0h0m6 0h0m1 0h0m-169 1h0m37 0h0m2 0h0m1 0h0m1 0h0m14 0h0m105 0h0m4 0h0m1 0h0m2 0h0m-168 1h0m162 0h0m1 0h0m2 0h0m-4 1h0m1 0h0m1 0h0m4 1h0m-105 1h0m3 1h0m3 0h0m-11 2h0m-2 1h0m8 0h0m-4 1h0m7 0h0m19 0h0m-27 1h0m8 0h0m19 0h0m-26 1h0m4 0h0m-5 1h0m-2 1h0m30 0h0m-12 2h0m13 1h0m0 1h0m-14 1h0m15 0h0m-1 1h0m1 0h0m-13 1h0m3 2h0m-1 1h0m1 0h0m0 1h0m-46 4h0m50 0h0m2 0h0m-55 1h0m53 0h0m5 1h0m-61 1h0m64 0h0m-68 1h0m1 0h0m59 0h0m3 0h0m4 0h0m-68 1h0m70 0h0m1 0h0m-71 1h0m60 0h0m1 2h0m0 2h0m-1 1h0m1 1h0m-3 2h0m-3 1h0m-4 1h0m1 0h0m3 1h0m-52 2h0m44 1h0m2 0h0m-1 1h0m-48 1h0m-3 2h0m16 4h0m8 0h0m-7 1h0m-2 1h0m4 0h0m1 0h0m-2 1h0m-2 1h0" stroke="#c08868" stroke-width="1.5" stroke-linecap="square"/>
<path d="M662 66h0m-12 5h0m-4 1h0m6 3h0m-7 1h0m2 0h0m1 2h0m1 0h0m2 1h0m169 23h0m-14 1h0m27 1h0m-2 2h0m-3 1h0m-10 3h0m-9 7h0m1 2h0m-265 20h0m2 1h0m-4 2h0m-2 5h0m4 2h0m-3 1h0m0 5h0m3 5h0m1 0h0m1 6h0m-3 3h0m0 1h0m2 7h0m-1 1h0m1 3h0m2 6h0" stroke="#6a5040" stroke-width="1.5" stroke-linecap="square"/>
<path d="M661 65h0m-5 8h0m-5 1h0m3 0h0m-2 1h0m-3 1h0m-2 2h0m2 0h0m1 0h0m0 1h0m163 23h0m-7 2h0m16 0h0m-15 1h0m11 0h0m8 0h0m-11 2h0m-8 1h0m13 2h0m1 2h0m-280 33h0m0 2h0m7 0h0m-6 5h0m-1 1h0m5 4h0m-2 3h0m1 6h0m3 2h0m-5 5h0m4 2h0m0 3h0" stroke="#8a6a50" stroke-width="1.5" stroke-linecap="square"/>
<path d="M544 136h0m2 0h0m-1 12h0m-2 1h0m-1 2h0m5 1h0m-1 12h0m1 8h0m-2 4h0m2 11h0m-305 244h0m-1 1h0m2 1h0m327 21h0m-22 2h0m16 1h0m9 2h0m-111 1h0m105 1h0m-31 1h0m9 0h0m-90 1h0m5 0h0m2 0h0m60 0h0m14 0h0m3 0h0m-87 1h0m80 0h0m2 0h0m3 0h0m-283 2h0m-4 1h0m197 0h0m-198 1h0m3 0h0m265 0h0m6 0h0m10 0h0m-287 1h0m1 0h0m3 0h0m292 0h0m-86 1h0m5 1h0m3 0h0m1 0h0m36 0h0m25 0h0m8 0h0m8 0h0m-20 1h0m-66 1h0m71 0h0m9 0h0m-80 1h0m5 0h0m76 0h0m-17 1h0m19 0h0m-23 2h0m1 0h0m-9 1h0m-256 3h0m251 0h0m-249 1h0m252 0h0m23 0h0m-280 1h0m255 0h0m16 0h0m6 0h0m-11 1h0m3 0h0m-247 1h0m241 1h0m5 0h0m-246 1h0m235 1h0m-230 2h0m212 0h0m-211 1h0m-5 2h0m217 0h0m-217 1h0m207 0h0m11 0h0m2 0h0m2 1h0m3 0h0m-8 1h0m1 1h0m-2 2h0m4 1h0m-4 2h0m-2 1h0m8 0h0m-29 1h0m-192 2h0m3 0h0m213 0h0m-216 1h0m120 0h0m97 0h0m3 0h0m-99 1h0m3 0h0m96 0h0m2 0h0m-104 1h0m4 0h0m55 0h0m16 0h0m16 0h0m-86 1h0m86 0h0m-93 1h0m93 0h0m-194 1h0m197 0h0m-194 1h0m101 0h0m60 0h0m19 0h0m-184 1h0m109 0h0m0 1h0m73 0h0m4 0h0m-177 1h0m99 0h0m69 0h0m1 0h0m-170 1h0m172 0h0m-176 2h0m1 0h0m163 0h0m1 0h0m-211 1h0m44 0h0m168 0h0m-215 1h0m1 0h0m3 0h0m-5 1h0m212 0h0m6 0h0m-6 4h0m8 1h0m1 0h0m-7 2h0m-158 5h0m-1 1h0m-2 1h0m-50 1h0m50 0h0m-53 1h0m52 0h0m124 0h0m-173 1h0m169 0h0m1 0h0m1 0h0m5 0h0m-9 1h0m3 0h0m1 0h0m-168 1h0m163 0h0m4 0h0m-172 1h0m1 0h0m3 0h0m2 0h0m159 0h0m11 0h0m-8 1h0m0 1h0m10 0h0m2 0h0m-117 1h0m118 0h0m-119 1h0m107 0h0m2 0h0m8 0h0m1 0h0m-119 1h0m3 0h0m104 0h0m3 0h0m5 0h0m1 0h0m-117 1h0m109 0h0m7 0h0m5 0h0m1 0h0m-168 1h0m40 0h0m1 0h0m6 0h0m1 0h0m4 0h0m112 0h0m5 0h0m-130 1h0m1 0h0m8 0h0m3 0h0m107 0h0m5 0h0m1 0h0m4 0h0m-133 1h0m1 0h0m16 0h0m4 0h0m99 0h0m7 0h0m2 0h0m3 0h0m-132 1h0m1 0h0m15 0h0m105 0h0m6 0h0m-111 1h0m2 0h0m105 0h0m4 0h0m2 1h0m-107 1h0m106 0h0m-104 1h0m99 0h0m6 1h0m-108 1h0m2 0h0m0 1h0m1 0h0m-8 1h0m8 0h0m2 0h0m-1 1h0m-2 1h0m-7 1h0m19 3h0m12 0h0m2 2h0m-2 2h0m2 0h0m-13 1h0m13 0h0m-58 8h0m52 1h0m5 0h0m2 0h0m1 1h0m-63 1h0m53 0h0m8 0h0m-62 1h0m58 0h0m-61 1h0m56 0h0m9 0h0m3 0h0m3 0h0m-73 2h0m67 1h0m1 0h0m-9 1h0m3 0h0m5 0h0m2 1h0m-5 1h0m-6 3h0m1 0h0m-1 2h0m-3 1h0m-2 1h0m1 0h0m-4 1h0m0 1h0m-49 2h0m2 0h0m42 0h0m2 1h0m-50 1h0m-1 1h0m1 0h0m-2 1h0m22 4h0m-5 2h0m1 0h0" stroke="#8a5a40" stroke-width="1.5" stroke-linecap="square"/>
<path d="M542 139h0m2 2h0m0 2h0m-3 1h0m2 3h0m-1 2h0m1 1h0m5 7h0m-4 10h0m2 1h0m-1 3h0m-1 4h0m2 0h0m0 3h0m2 10h0m0 1h0m-305 244h0m308 20h0m1 1h0m22 1h0m-4 1h0m4 2h0m-3 1h0m5 0h0m-115 1h0m75 0h0m20 0h0m-18 1h0m3 0h0m17 0h0m-35 3h0m11 0h0m10 0h0m1 0h0m-82 1h0m82 0h0m1 0h0m4 0h0m-93 1h0m-206 1h0m273 0h0m16 0h0m-289 1h0m197 0h0m77 0h0m-280 1h0m5 0h0m203 0h0m87 0h0m-294 1h0m206 0h0m96 0h0m-92 1h0m-8 1h0m6 0h0m7 0h0m1 0h0m48 1h0m17 0h0m-19 1h0m28 0h0m-81 1h0m-1 1h0m1 0h0m53 1h0m1 1h0m-5 1h0m14 0h0m-1 1h0m-264 1h0m254 0h0m-257 1h0m277 0h0m-278 1h0m2 0h0m-3 1h0m1 0h0m0 1h0m270 1h0m-26 2h0m21 0h0m-7 1h0m-22 2h0m1 0h0m0 1h0m-215 1h0m-1 1h0m1 0h0m206 3h0m6 2h0m11 1h0m-3 1h0m-3 1h0m-9 1h0m1 2h0m9 0h0m-1 1h0m1 0h0m5 0h0m4 0h0m2 0h0m-224 1h0m120 0h0m90 0h0m4 0h0m-95 1h0m62 0h0m34 0h0m3 0h0m-43 2h0m18 0h0m-72 1h0m1 0h0m52 0h0m38 0h0m-90 1h0m2 0h0m70 0h0m14 0h0m-193 2h0m4 0h0m103 0h0m62 0h0m3 0h0m4 0h0m-170 1h0m100 0h0m1 0h0m65 0h0m-9 1h0m-7 1h0m5 0h0m4 0h0m17 1h0m-227 1h0m45 0h0m2 0h0m-47 1h0m46 0h0m-50 1h0m207 0h0m2 1h0m12 0h0m-12 1h0m1 1h0m-1 1h0m1 0h0m5 0h0m-5 1h0m11 0h0m-8 4h0m1 0h0m-1 1h0m-160 6h0m-54 1h0m179 0h0m-176 1h0m168 0h0m2 0h0m5 0h0m-176 1h0m50 0h0m123 0h0m5 0h0m-179 1h0m4 0h0m169 0h0m5 0h0m2 0h0m-181 1h0m165 0h0m3 0h0m6 0h0m1 0h0m4 0h0m-11 1h0m9 0h0m-110 2h0m104 0h0m1 0h0m9 0h0m-116 1h0m111 0h0m3 0h0m2 0h0m-118 1h0m4 0h0m2 0h0m108 0h0m1 0h0m1 0h0m-116 1h0m7 0h0m103 0h0m6 0h0m4 0h0m1 0h0m-127 1h0m1 0h0m9 0h0m104 0h0m8 0h0m-126 1h0m1 0h0m1 0h0m8 0h0m3 0h0m106 0h0m1 0h0m4 0h0m5 0h0m-169 1h0m37 0h0m125 0h0m-124 1h0m1 0h0m14 0h0m109 0h0m1 0h0m-129 1h0m130 0h0m1 0h0m-103 1h0m4 0h0m94 0h0m3 0h0m1 1h0m0 1h0m-106 1h0m2 0h0m6 0h0m-10 1h0m4 0h0m-4 1h0m4 0h0m-2 1h0m4 0h0m1 0h0m3 0h0m-7 1h0m-7 1h0m1 0h0m6 0h0m2 0h0m1 0h0m-6 1h0m3 0h0m4 0h0m20 0h0m-26 1h0m1 0h0m1 0h0m24 1h0m2 1h0m-13 1h0m1 1h0m12 0h0m-11 3h0m13 0h0m-12 1h0m0 2h0m3 2h0m-2 1h0m1 0h0m-48 1h0m59 2h0m-65 1h0m56 0h0m-2 1h0m9 0h0m-6 1h0m2 0h0m1 0h0m4 0h0m2 0h0m-67 1h0m1 0h0m55 0h0m11 0h0m-70 1h0m66 0h0m4 0h0m-10 1h0m2 0h0m4 0h0m2 0h0m3 0h0m-2 1h0m-10 1h0m3 4h0m-4 1h0m1 0h0m1 0h0m-4 1h0m1 0h0m-4 4h0m-3 1h0m-2 1h0m-1 1h0m-45 1h0m42 0h0m-47 1h0m-1 1h0m3 0h0m21 3h0m1 0h0m-2 1h0m2 0h0m-4 1h0m1 0h0m1 0h0m-6 1h0m2 0h0m-3 2h0" stroke="#a87050" stroke-width="1.5" stroke-linecap="square"/>
<path d="M542 140h0m-1 1h0m0 6h0m0 1h0m2 4h0m5 3h0m-5 2h0m2 3h0m2 15h0m0 10h0m1 0h0m-306 245h0m-1 1h0m2 2h0m308 20h0m2 0h0m-2 1h0m14 2h0m7 0h0m-29 3h0m33 0h0m-114 1h0m113 0h0m-37 1h0m15 0h0m-96 1h0m96 0h0m-9 2h0m9 0h0m-101 2h0m6 0h0m59 0h0m29 0h0m-295 1h0m-3 1h0m199 0h0m66 1h0m28 0h0m-93 1h0m11 0h0m54 0h0m8 0h0m-66 1h0m7 0h0m51 0h0m9 1h0m-66 1h0m58 0h0m-2 1h0m2 1h0m-60 1h0m52 1h0m5 1h0m-9 1h0m15 0h0m-263 2h0m1 0h0m-3 1h0m252 0h0m15 0h0m-269 1h0m1 0h0m262 0h0m-265 1h0m2 0h0m266 0h0m-246 2h0m246 0h0m1 0h0m-245 1h0m2 1h0m218 0h0m19 0h0m-19 1h0m15 0h0m6 0h0m-238 1h0m211 0h0m2 0h0m-213 1h0m1 0h0m-3 1h0m210 0h0m2 0h0m-211 1h0m214 0h0m-2 1h0m9 0h0m0 1h0m-11 1h0m10 0h0m-16 2h0m2 1h0m-2 2h0m0 1h0m0 1h0m12 0h0m-213 2h0m219 0h0m-222 2h0m220 1h0m-100 1h0m3 0h0m-5 1h0m2 0h0m2 0h0m93 0h0m-8 1h0m-191 1h0m103 0h0m3 0h0m68 0h0m23 0h0m-199 1h0m2 0h0m6 0h0m1 0h0m97 0h0m3 0h0m74 0h0m-180 1h0m5 0h0m1 0h0m0 1h0m93 0h0m-94 1h0m96 0h0m63 0h0m-162 1h0m2 1h0m153 0h0m11 0h0m-214 1h0m1 0h0m-2 1h0m217 0h0m-218 1h0m1 0h0m211 0h0m14 0h0m-227 1h0m216 0h0m8 1h0m-1 2h0m-10 5h0m-160 4h0m2 0h0m-3 3h0m124 0h0m-179 2h0m175 0h0m1 0h0m5 0h0m-180 1h0m4 0h0m1 0h0m1 0h0m166 0h0m3 0h0m-176 1h0m4 0h0m170 0h0m3 0h0m-171 1h0m171 0h0m5 0h0m-10 1h0m9 0h0m2 0h0m-11 1h0m5 0h0m5 0h0m-113 1h0m110 0h0m-108 1h0m108 1h0m1 0h0m1 0h0m-111 1h0m3 0h0m103 0h0m1 0h0m3 0h0m4 0h0m-127 1h0m6 0h0m2 0h0m3 0h0m112 0h0m-167 1h0m42 0h0m1 0h0m11 0h0m6 0h0m105 0h0m3 0h0m-169 1h0m1 0h0m38 0h0m4 0h0m2 0h0m119 0h0m-164 1h0m55 0h0m114 0h0m-129 1h0m123 0h0m2 0h0m1 0h0m1 0h0m-101 1h0m3 0h0m96 0h0m1 0h0m-106 1h0m8 0h0m1 0h0m96 0h0m-107 2h0m9 0h0m2 0h0m-8 1h0m2 0h0m1 0h0m5 0h0m1 0h0m-12 1h0m5 0h0m-7 2h0m9 0h0m2 0h0m1 0h0m-4 1h0m-7 1h0m2 0h0m4 0h0m3 0h0m-8 1h0m3 0h0m-4 1h0m18 1h0m0 1h0m12 0h0m1 0h0m-14 1h0m2 1h0m12 0h0m1 1h0m1 0h0m-12 1h0m11 1h0m-10 3h0m0 1h0m1 0h0m-48 2h0m47 0h0m-50 2h0m61 0h0m-7 1h0m8 0h0m2 1h0m-3 1h0m2 0h0m3 0h0m-72 1h0m-2 1h0m65 0h0m-1 1h0m7 0h0m1 0h0m-10 3h0m1 0h0m1 0h0m-3 3h0m1 0h0m-2 2h0m-3 2h0m-3 1h0m0 1h0m-51 2h0m1 1h0m43 0h0m1 0h0m-47 1h0m44 0h0m1 0h0m-25 5h0m-1 1h0m-2 1h0m-3 1h0m-2 1h0" stroke="#e8c8a0" stroke-width="1.5" stroke-linecap="square"/>
<path d="M662 62h0m-1 2h0m-5 2h0m-1 7h0m-4 1h0m1 2h0m1 0h0m1 0h0m156 26h0m5 0h0m-7 3h0m9 0h0m6 1h0m-13 3h0m4 0h0m-9 2h0m15 1h0m-11 2h0m5 3h0m-271 19h0m2 6h0m3 5h0m-1 21h0m0 3h0m-23 137h0m-2 2h0m4 0h0m2 1h0m1 2h0m-10 1h0m11 1h0m-23 1h0m1 0h0m-12 1h0m12 0h0m-8 1h0m8 0h0m10 0h0m11 0h0m-35 1h0m1 0h0m30 0h0m-27 1h0m8 0h0m15 1h0m-17 1h0m-9 1h0m1 0h0m22 0h0m-32 1h0m2 3h0m3 0h0m7 2h0m-1 1h0m-10 1h0m0 1h0m5 1h0m-5 1h0m38 1h0m8 0h0m2 0h0m-65 1h0m54 0h0m-54 1h0m60 0h0m1 1h0m-57 1h0m-2 1h0m61 2h0m-65 1h0m66 0h0m-3 2h0m1 1h0m-12 1h0m11 0h0m-9 2h0m-13 1h0m4 0h0m12 0h0m-8 1h0m2 0h0m-14 1h0m1 0h0m41 0h0m-32 1h0m33 1h0m1 0h0m-100 1h0m55 0h0m1 0h0m8 0h0m3 0h0m2 0h0m4 0h0m18 0h0m1 0h0m10 0h0m-63 1h0m1 0h0m1 0h0m21 0h0m29 0h0m-25 1h0m26 0h0m3 0h0m-98 1h0m3 0h0m36 0h0m22 0h0m4 0h0m-66 1h0m37 0h0m7 0h0m2 0h0m27 0h0m16 0h0m-83 1h0m29 0h0m39 0h0m18 0h0m7 0h0m8 0h0m-105 1h0m2 0h0m49 0h0m-62 1h0m53 0h0m25 0h0m24 0h0m-107 1h0m8 0h0m72 0h0m28 0h0m4 0h0m-92 1h0m39 0h0m38 0h0m11 0h0m7 0h0m-61 1h0m25 0h0m30 0h0m-7 1h0m7 0h0m-105 1h0m57 0h0m2 0h0m2 0h0m3 0h0m-63 1h0m3 1h0m48 1h0m46 0h0m-40 1h0m42 0h0m-45 1h0m-2 1h0m-24 3h0m2 0h0m86 0h0m4 0h0m3 0h0m-7 1h0m-93 1h0m2 0h0m4 0h0m85 0h0m-88 1h0m4 1h0m83 0h0m-82 1h0m85 0h0m13 0h0m2 0h0m-110 1h0m91 0h0m5 0h0m-96 1h0m87 0h0m9 0h0m-86 1h0m89 0h0m-86 1h0m76 0h0m10 0h0m7 0h0m-105 1h0m103 0h0m-106 1h0m12 0h0m2 0h0m2 0h0m74 0h0m11 0h0m-93 1h0m83 0h0m12 0h0m-3 1h0m-96 1h0m5 0h0m-8 1h0m99 0h0m2 0h0m-102 2h0m1 0h0m94 0h0m4 0h0m-3 1h0m18 0h0m-111 1h0m111 0h0m7 1h0m-6 1h0m-1 1h0m6 0h0m-6 1h0m2 0h0m1 1h0m-12 1h0m16 2h0m4 0h0m0 1h0m-35 1h0m30 0h0m3 0h0m-38 1h0m26 0h0m10 0h0m2 0h0m-32 2h0m1 1h0m18 0h0m10 0h0m-30 1h0m4 0h0m23 0h0m1 0h0m-38 1h0m5 0h0m9 0h0m19 0h0m-36 1h0m6 0h0m29 0h0m1 0h0m-27 1h0m-2 2h0m2 0h0m2 0h0m4 0h0m4 0h0m-9 1h0m2 0h0m22 0h0m25 0h0m-56 1h0m2 0h0m57 0h0m-54 1h0m48 0h0m0 1h0m6 0h0m-54 1h0m2 0h0m43 0h0m-5 1h0m13 1h0m-64 1h0m4 0h0m3 1h0m42 0h0m-43 1h0m53 0h0m2 0h0m4 0h0m-58 2h0m43 0h0m16 0h0m-66 1h0m58 0h0m-59 1h0m50 0h0m14 0h0m-15 1h0m-42 1h0m2 0h0m45 0h0m-54 1h0m48 0h0m-79 1h0m30 0h0m46 0h0m0 1h0m14 0h0m4 0h0m-61 1h0m50 0h0m1 0h0m8 1h0m-96 1h0m71 0h0m-3 1h0m-69 1h0m68 0h0m3 0h0m14 0h0m-18 1h0m8 0h0m-79 1h0m0 1h0m64 0h0m15 0h0m-76 1h0m6 0h0m70 0h0m-68 1h0m58 0h0m12 0h0m-92 1h0m22 0h0m-20 1h0m3 0h0m9 0h0m1 0h0m66 0h0m8 0h0m1 0h0m-84 1h0m72 0h0m-62 1h0m69 0h0m-79 1h0m10 0h0m61 0h0m-66 3h0m-14 1h0m74 0h0m1 0h0m-1 1h0m6 0h0m-68 1h0m62 0h0m27 0h0m-94 2h0m83 0h0m6 0h0m-24 1h0m23 1h0m-29 1h0m-81 1h0m3 0h0m80 0h0m26 0h0m-29 1h0m-2 1h0m21 0h0m-107 1h0m-4 2h0m75 2h0m11 0h0m1 0h0m13 0h0m-22 1h0m11 0h0m11 0h0m-89 1h0m69 0h0m-67 1h0m49 0h0m1 0h0m-50 1h0m40 0h0m25 0h0m-66 1h0m2 0h0m1 0h0m44 0h0m-56 1h0m63 0h0m1 1h0m2 1h0m1 0h0m-9 2h0m3 1h0m19 0h0m-20 3h0m6 0h0m2 0h0m8 0h0m-6 3h0m-12 1h0m6 0h0m3 0h0m-11 1h0m12 0h0m-5 1h0m0 1h0m-25 1h0m3 4h0m-5 1h0m3 0h0m4 0h0m-16 1h0m13 1h0m-9 2h0m9 0h0m-4 1h0m-7 2h0m14 0h0m-30 1h0m29 0h0m-29 1h0m29 0h0m1 0h0m-5 1h0m-30 1h0m38 1h0m1 0h0m-3 1h0m-26 1h0m21 0h0m-43 4h0m22 0h0m-14 3h0m11 1h0m1 1h0m-17 2h0m17 2h0m2 0h0m-2 1h0m-6 1h0m1 1h0m-7 4h0" stroke="#b89878" stroke-width="1.5" stroke-linecap="square"/>
<path d="M663 64h0m-4 3h0m2 1h0m-12 4h0m6 0h0m-2 3h0m-6 1h0m6 0h0m-7 1h0m2 1h0m2 0h0m1 1h0m169 23h0m3 1h0m-17 2h0m9 5h0m-5 2h0m11 1h0m-10 1h0m-2 2h0m2 2h0m1 0h0m-264 23h0m-3 1h0m-4 3h0m7 26h0m-2 7h0m2 14h0" stroke="#c8b090" stroke-width="1.5" stroke-linecap="square"/>
<path d="M663 62h0m-4 1h0m-2 3h0m3 2h0m-8 3h0m-3 3h0m6 0h0m-6 1h0m-1 2h0m4 0h0m-1 1h0m160 22h0m15 5h0m4 0h0m-13 1h0m8 0h0m7 0h0m-18 2h0m-7 1h0m1 2h0m6 1h0m6 2h0m-7 5h0m-267 17h0m-1 1h0m-1 5h0m1 3h0m0 6h0m0 2h0m3 9h0m0 12h0m0 16h0m-23 117h0m-1 1h0m1 1h0m1 0h0m-1 3h0m0 1h0m-5 1h0m-5 1h0m11 0h0m-29 1h0m20 0h0m-21 2h0m1 0h0m-8 1h0m3 0h0m18 0h0m8 0h0m-24 1h0m11 0h0m19 0h0m-2 1h0m1 0h0m-24 1h0m5 0h0m2 0h0m-5 1h0m2 0h0m-17 1h0m7 1h0m3 0h0m7 0h0m-17 1h0m2 0h0m5 0h0m-5 1h0m9 0h0m-1 1h0m1 0h0m-2 1h0m-11 1h0m49 0h0m-34 2h0m30 0h0m-36 1h0m33 0h0m2 1h0m4 2h0m-61 1h0m52 0h0m6 1h0m5 0h0m-1 2h0m7 0h0m-75 1h0m61 0h0m-60 2h0m55 0h0m10 1h0m-62 1h0m4 0h0m43 1h0m15 1h0m-3 1h0m-17 1h0m11 0h0m-4 2h0m28 0h0m2 0h0m-51 1h0m12 1h0m16 0h0m17 0h0m-49 1h0m1 0h0m17 0h0m2 0h0m26 1h0m-40 1h0m-52 1h0m46 0h0m12 0h0m32 0h0m10 0h0m-99 1h0m51 0h0m19 0h0m16 0h0m7 0h0m8 0h0m-99 1h0m37 0h0m8 0h0m5 0h0m41 0h0m3 0h0m-108 1h0m9 0h0m1 0h0m33 0h0m12 0h0m24 0h0m2 0h0m20 0h0m-51 1h0m7 0h0m-54 1h0m73 0h0m28 0h0m3 0h0m-54 1h0m4 0h0m38 0h0m-22 1h0m-20 1h0m21 0h0m26 0h0m-97 1h0m1 0h0m51 0h0m6 0h0m6 0h0m-66 1h0m98 0h0m-48 1h0m6 0h0m2 0h0m-59 2h0m51 0h0m6 0h0m-57 1h0m53 1h0m47 1h0m1 0h0m-75 3h0m91 0h0m-89 2h0m89 0h0m-2 1h0m0 1h0m-94 1h0m89 0h0m1 0h0m5 0h0m-85 1h0m92 0h0m5 0h0m1 0h0m-22 1h0m6 0h0m5 0h0m-11 1h0m19 0h0m-104 1h0m11 0h0m74 0h0m20 0h0m-94 1h0m83 0h0m-90 1h0m6 0h0m93 0h0m-16 1h0m13 0h0m-94 1h0m2 0h0m-10 1h0m94 0h0m-91 1h0m2 0h0m90 3h0m20 1h0m-3 1h0m-112 1h0m109 0h0m7 0h0m-114 2h0m112 0h0m1 0h0m-10 1h0m10 0h0m-11 1h0m12 0h0m7 0h0m-5 2h0m4 0h0m-8 1h0m9 0h0m-35 1h0m1 0h0m1 0h0m29 0h0m-8 1h0m-25 1h0m37 0h0m-31 1h0m25 0h0m-34 1h0m1 0h0m24 0h0m6 0h0m-32 1h0m9 0h0m-7 1h0m8 0h0m1 0h0m19 0h0m-34 1h0m-5 1h0m1 1h0m20 0h0m-19 1h0m11 0h0m1 0h0m3 1h0m-6 1h0m1 0h0m49 0h0m3 1h0m-5 1h0m-5 1h0m1 0h0m5 0h0m6 0h0m-58 1h0m6 0h0m40 0h0m-46 2h0m46 0h0m8 0h0m3 0h0m-63 1h0m52 0h0m-45 1h0m44 0h0m6 0h0m4 0h0m-60 1h0m51 0h0m-52 1h0m1 0h0m2 0h0m52 0h0m13 0h0m-11 1h0m5 2h0m-61 1h0m3 0h0m1 0h0m42 0h0m9 1h0m3 0h0m1 0h0m-62 1h0m44 0h0m10 0h0m13 0h0m-16 2h0m-85 1h0m2 0h0m-3 1h0m68 1h0m2 0h0m-4 1h0m7 0h0m-80 2h0m9 0h0m1 0h0m65 0h0m5 0h0m10 0h0m-88 2h0m8 0h0m56 0h0m14 0h0m-89 2h0m11 0h0m2 0h0m62 0h0m12 0h0m-90 1h0m91 0h0m-86 1h0m14 0h0m1 0h0m1 0h0m62 1h0m-82 1h0m1 0h0m87 0h0m-87 1h0m14 0h0m0 1h0m-2 1h0m68 0h0m-1 1h0m16 2h0m-88 1h0m59 3h0m3 0h0m17 0h0m-103 2h0m3 0h0m108 0h0m6 0h0m-41 2h0m-2 1h0m10 0h0m-95 1h0m69 0h0m15 0h0m22 0h0m1 0h0m-99 1h0m75 0h0m-79 1h0m7 0h0m64 0h0m8 0h0m18 0h0m2 0h0m-34 1h0m5 0h0m1 0h0m1 0h0m-9 1h0m20 0h0m6 0h0m6 0h0m-91 1h0m3 0h0m84 0h0m-32 1h0m-55 1h0m57 0h0m-64 1h0m8 0h0m1 0h0m56 0h0m28 0h0m-27 1h0m-61 1h0m51 0h0m1 0h0m4 2h0m-7 1h0m4 0h0m-5 2h0m15 0h0m-12 2h0m23 0h0m-7 1h0m1 1h0m-6 1h0m4 0h0m-12 5h0m-21 1h0m2 0h0m-8 1h0m3 0h0m3 1h0m-4 1h0m6 1h0m-8 1h0m13 0h0m-14 1h0m5 0h0m-3 1h0m6 0h0m1 1h0m-11 3h0m8 0h0m2 1h0m4 0h0m-10 2h0m10 3h0m2 0h0m-41 1h0m32 2h0m-2 1h0m-20 3h0m5 1h0m-2 1h0m-1 2h0m2 1h0m-2 2h0m2 0h0m-9 1h0m3 0h0m-9 2h0m9 2h0" stroke="#a08060" stroke-width="1.5" stroke-linecap="square"/>
<path d="M662 61h0m-8 11h0m-5 1h0m-2 1h0m-2 1h0m4 1h0m6 0h0m-6 1h0m1 0h0m1 0h0m1 0h0m161 25h0m7 0h0m-6 1h0m20 0h0m-4 2h0m-18 3h0m14 0h0m-12 1h0m2 2h0m0 1h0m4 1h0m-7 8h0m-266 20h0m-1 1h0m-1 4h0m3 3h0m-3 4h0m0 7h0m3 10h0m-1 10h0" stroke="#d8c0a0" stroke-width="1.5" stroke-linecap="square"/>
<path d="M876 58h0m5 1h0m-28 1h0m13 3h0m-16 2h0m15 1h0m2 3h0m-18 1h0m-5 1h0m7 0h0m-15 1h0m2 0h0m-18 1h0m37 0h0m-50 1h0m22 2h0m10 0h0m-40 1h0m-10 19h0m6 5h0m-3 2h0m-2 3h0m-1 10h0m2 2h0m1 2h0m-136 6h0m-118 1h0m1 0h0m119 0h0m-1 1h0m-120 1h0m119 0h0m-121 1h0m120 6h0m1 4h0m0 3h0m1 5h0m1 1h0m18 46h0m-2 2h0m3 0h0m1 1h0m0 2h0m1 3h0m4 1h0m3 1h0m0 1h0m2 1h0m3 0h0m-3 1h0m5 0h0m0 2h0m1 1h0m9 6h0m-5 4h0m-2 2h0m1 1h0m-3 4h0m-4 5h0m-5 8h0m0 1h0m-2 1h0m2 1h0m1 0h0m-4 1h0m-164 65h0m-1 2h0m1 0h0m1 1h0m2 0h0m-1 2h0m1 1h0m2 1h0m2 2h0m2 0h0m-3 15h0m2 6h0m2 0h0m4 4h0m1 0h0m-3 1h0m6 0h0m-1 2h0m-1 1h0m2 0h0m-1 6h0m1 1h0m0 2h0m-2 1h0m3 0h0m1 0h0m3 3h0m2 1h0m-2 1h0m2 0h0m4 3h0m4 1h0m-2 1h0m0 5h0m-1 2h0m-1 1h0m3 5h0m9 3h0m-1 1h0m3 3h0m363 4h0m-359 6h0m2 1h0m-5 1h0m4 2h0m3 2h0m350 0h0m-348 2h0m1 1h0m6 4h0m1 1h0m-5 6h0m5 3h0m1 2h0m-2 1h0m2 2h0m1 1h0m6 3h0m330 0h0m-327 1h0m415 1h0m-411 4h0m410 2h0m-84 2h0m4 6h0m78 11h0m4 0h0m0 1h0m-59 1h0m1 0h0m6 0h0m54 0h0m-39 2h0m41 1h0m-35 1h0m38 2h0m2 2h0" stroke="#ffffff" stroke-width="1.3" stroke-linecap="square"/>
<path d="M866 58h0m5 6h0m-35 1h0m20 0h0m-6 2h0m5 1h0m-15 2h0m16 1h0m-51 2h0m15 0h0m18 0h0m20 0h0m-52 1h0m-5 1h0m-7 19h0m-1 5h0m-7 3h0m4 1h0m-1 2h0m-133 19h0m-116 2h0m1 0h0m-1 1h0m-4 1h0m1 0h0m120 1h0m-1 8h0m1 4h0m16 57h0m5 0h0m1 2h0m1 0h0m8 4h0m-2 1h0m2 2h0m3 0h0m-3 1h0m3 4h0m7 1h0m1 0h0m-1 1h0m2 0h0m-2 1h0m2 0h0m0 1h0m-6 9h0m-1 1h0m-7 9h0m2 2h0m-4 3h0m1 0h0m3 2h0m-4 2h0m-5 2h0m-157 72h0m5 4h0m1 2h0m-7 7h0m-1 1h0m2 0h0m0 2h0m2 4h0m3 0h0m1 0h0m2 6h0m7 3h0m-4 7h0m0 1h0m5 3h0m0 2h0m7 0h0m-1 3h0m0 1h0m1 1h0m2 0h0m-4 1h0m2 0h0m1 8h0m3 1h0m-1 2h0m1 2h0m7 4h0m3 2h0m1 3h0m3 0h0m-4 1h0m2 0h0m2 2h0m3 2h0m-5 1h0m5 4h0m2 3h0m0 1h0m1 0h0m2 1h0m2 3h0m0 2h0m4 3h0m339 1h0m-1 2h0m93 0h0m-93 3h0m-339 1h0m-1 2h0m1 0h0m2 0h0m1 1h0m0 1h0m-1 1h0m2 0h0m427 3h0m-424 2h0m0 1h0m2 0h0m5 3h0m414 6h0m-2 5h0m-79 1h0m2 3h0m2 0h0m75 0h0m-2 3h0m-11 5h0m15 0h0m1 0h0m-18 1h0m21 3h0m8 6h0m-2 2h0m3 1h0m-1 1h0m2 0h0" stroke="#9890a8" stroke-width="1.3" stroke-linecap="square"/>
<path d="M875 60h0m4 1h0m-62 7h0m29 0h0m1 0h0m18 0h0m-5 2h0m-41 1h0m9 1h0m-7 1h0m22 1h0m17 1h0m-42 1h0m6 0h0m-4 1h0m-18 1h0m-3 1h0m7 0h0m-16 14h0m1 0h0m-4 3h0m3 1h0m2 14h0m1 4h0m-136 6h0m-117 3h0m-5 5h0m121 1h0m1 5h0m-1 1h0m0 1h0m0 10h0m1 2h0m19 49h0m4 1h0m2 3h0m-2 1h0m5 0h0m-1 1h0m5 1h0m1 2h0m5 2h0m-2 1h0m1 0h0m1 0h0m3 0h0m-2 1h0m1 8h0m-1 5h0m1 0h0m-2 2h0m2 0h0m-5 8h0m-3 1h0m-4 1h0m4 0h0m3 0h0m-10 9h0m2 0h0m-167 65h0m5 4h0m-2 1h0m-2 1h0m3 0h0m0 1h0m8 4h0m0 1h0m-2 1h0m-6 10h0m5 5h0m0 1h0m7 3h0m-2 2h0m3 3h0m-1 4h0m3 5h0m1 0h0m3 2h0m2 3h0m-2 1h0m4 0h0m-2 3h0m5 1h0m1 0h0m-3 2h0m4 1h0m0 2h0m-2 5h0m-2 1h0m1 0h0m2 1h0m2 0h0m1 1h0m2 3h0m3 1h0m372 0h0m-371 2h0m1 0h0m4 2h0m-1 2h0m2 0h0m1 0h0m1 3h0m0 2h0m-4 4h0m3 0h0m3 1h0m1 2h0m1 2h0m-1 1h0m2 0h0m346 0h0m-345 1h0m435 1h0m-433 1h0m433 0h0m-432 2h0m4 2h0m337 0h0m-338 9h0m433 0h0m-431 2h0m2 0h0m-1 1h0m1 2h0m1 0h0m426 0h0m1 0h0m-92 1h0m-330 4h0m420 0h0m-420 1h0m-1 2h0m3 1h0m416 0h0m-2 6h0m-68 12h0m70 2h0m-3 2h0m-41 4h0m-6 1h0m56 1h0m2 3h0m4 2h0" stroke="#b8b0c8" stroke-width="1.3" stroke-linecap="square"/>
<path d="M776 114h0m-5 1h0m12 1h0m-10 1h0m18 2h0m-10 1h0m-9 2h0m4 0h0m-171 43h0m5 0h0m-10 1h0m3 0h0m8 0h0m-10 1h0m2 0h0m2 0h0m4 0h0m2 0h0m1 0h0m-11 1h0m1 0h0m4 0h0m1 0h0m4 0h0m1 0h0m-10 1h0m4 0h0m6 0h0m-9 1h0m4 0h0m2 0h0m-11 1h0m1 0h0m3 0h0m1 0h0m10 0h0m-19 1h0m5 0h0m5 0h0m2 0h0m1 0h0m1 0h0m1 0h0m5 0h0m-19 1h0m2 0h0m6 0h0m1 0h0m1 0h0m1 0h0m2 0h0m-3 1h0m2 0h0m1 0h0m3 0h0m3 0h0m2 0h0m-20 1h0m1 0h0m3 0h0m3 0h0m4 0h0m4 0h0m4 0h0m-18 1h0m3 0h0m1 0h0m4 0h0m3 0h0m1 0h0m1 0h0m6 0h0m-12 1h0m1 0h0m1 0h0m5 0h0m2 0h0m1 0h0m-17 1h0m2 0h0m8 0h0m4 0h0m3 0h0m-15 1h0m9 0h0m1 0h0m2 0h0m-13 1h0m8 0h0m2 0h0m-8 1h0m6 0h0m1 0h0m-3 1h0m-3 1h0m1 0h0m248 25h0m-19 2h0m5 0h0m0 2h0m-8 2h0m18 3h0m-15 1h0m19 0h0m-27 2h0m47 0h0m-42 2h0m6 4h0m4 1h0m13 0h0m30 0h0m-48 1h0m29 0h0m-10 1h0m23 0h0m-31 1h0m-35 1h0m8 2h0m6 2h0m16 0h0m3 1h0m46 1h0m-55 1h0m-17 1h0m30 2h0m34 0h0m4 1h0m-32 1h0m19 0h0m4 2h0m-35 1h0m22 1h0m35 0h0m-40 1h0m12 0h0m23 0h0m-22 1h0m24 0h0m3 0h0m-59 1h0m14 0h0m31 0h0m4 0h0m-37 1h0m9 0h0m14 0h0m-8 1h0m15 2h0m20 3h0m-34 1h0m15 0h0m12 2h0m5 1h0m2 0h0m3 0h0m1 0h0m2 0h0m1 0h0m2 0h0m-41 1h0m38 0h0m2 1h0m-2 1h0m3 1h0m3 0h0m0 2h0m-3 1h0m2 0h0m-3 1h0m1 5h0m3 1h0m0 5h0m1 0h0m1 0h0m7 8h0m-3 2h0m-2 6h0m2 0h0m-3 3h0m3 2h0m1 0h0m4 0h0m-6 2h0m1 4h0m2 3h0m0 1h0m-3 1h0m-1 16h0m-5 6h0m-1 2h0m0 2h0m2 1h0m-2 1h0m7 0h0" stroke="#a89070" stroke-width="1.7" stroke-linecap="square"/>
<path d="M781 109h0m-10 1h0m6 0h0m-1 1h0m7 1h0m-5 1h0m5 0h0m-4 1h0m-7 1h0m8 1h0m1 3h0m4 0h0m-6 2h0m-171 41h0m-3 3h0m3 1h0m4 0h0m-11 1h0m1 0h0m1 0h0m8 0h0m-9 1h0m2 0h0m-2 2h0m3 0h0m9 0h0m-5 1h0m-6 1h0m7 0h0m-7 1h0m1 0h0m7 0h0m4 0h0m-15 1h0m7 0h0m1 0h0m1 0h0m7 0h0m-16 2h0m3 0h0m6 0h0m1 0h0m2 0h0m-16 1h0m18 0h0m-3 1h0m-11 3h0m2 0h0m3 0h0m2 0h0m-6 2h0m241 26h0m-2 2h0m5 0h0m-21 3h0m17 1h0m20 0h0m-35 1h0m0 3h0m-10 1h0m33 3h0m7 2h0m-14 3h0m18 0h0m4 0h0m-51 1h0m14 1h0m23 2h0m32 0h0m-55 1h0m26 0h0m-33 1h0m8 0h0m11 1h0m25 0h0m8 0h0m2 0h0m-34 1h0m6 0h0m-9 1h0m3 1h0m12 3h0m30 1h0m-19 5h0m5 0h0m12 0h0m11 0h0m-53 2h0m23 0h0m3 1h0m30 0h0m-34 1h0m7 0h0m19 0h0m10 0h0m-45 1h0m9 0h0m28 0h0m13 0h0m-26 1h0m18 0h0m9 0h0m-40 1h0m10 0h0m6 0h0m18 0h0m2 0h0m-32 1h0m1 0h0m18 0h0m18 1h0m-26 4h0m28 0h0m-2 1h0m5 1h0m-36 1h0m32 1h0m-26 1h0m23 0h0m0 1h0m7 0h0m0 1h0m0 1h0m-4 3h0m5 0h0m5 1h0m-1 1h0m-5 5h0m1 0h0m2 1h0m4 1h0m-1 4h0m4 2h0m-1 4h0m2 1h0m-3 4h0m1 1h0m2 0h0m-3 1h0m2 3h0m-3 1h0m7 1h0m-9 1h0m4 0h0m-1 2h0m6 2h0m-3 1h0m3 0h0m-4 5h0m-1 2h0m0 5h0m4 1h0m-5 5h0m4 0h0m1 2h0m-12 9h0m5 0h0m-3 2h0m-2 2h0m2 1h0" stroke="#c0a880" stroke-width="1.7" stroke-linecap="square"/>
<path d="M776 109h0m5 2h0m-3 1h0m5 0h0m-5 1h0m7 2h0m1 0h0m1 3h0m-11 1h0m16 1h0m-20 1h0m4 0h0m14 0h0m-181 41h0m1 0h0m-2 2h0m0 1h0m-6 1h0m7 0h0m1 0h0m-3 1h0m1 0h0m3 0h0m1 0h0m-6 1h0m2 0h0m-3 1h0m1 0h0m2 0h0m-3 2h0m1 0h0m1 0h0m-9 1h0m5 0h0m3 0h0m2 0h0m8 0h0m-13 1h0m2 0h0m4 1h0m-12 1h0m8 0h0m6 0h0m-11 1h0m6 0h0m1 0h0m-6 1h0m3 0h0m1 0h0m5 0h0m1 0h0m3 0h0m-15 1h0m8 0h0m1 1h0m2 0h0m-12 1h0m6 0h0m-1 1h0m3 0h0m1 1h0m1 0h0m-4 1h0m-3 2h0m233 23h0m18 0h0m-17 1h0m-7 3h0m4 0h0m4 0h0m-8 3h0m2 0h0m-13 2h0m21 0h0m8 1h0m-20 4h0m-7 1h0m11 3h0m-9 2h0m62 1h0m-76 1h0m44 0h0m-40 1h0m14 0h0m14 0h0m-22 1h0m56 1h0m-29 1h0m10 0h0m3 0h0m9 2h0m-20 1h0m2 0h0m27 0h0m-49 2h0m56 0h0m-3 1h0m11 0h0m-50 1h0m55 0h0m-68 1h0m44 0h0m-8 2h0m-36 1h0m31 1h0m30 0h0m3 0h0m-43 1h0m22 0h0m26 0h0m-48 1h0m45 1h0m-57 1h0m35 1h0m26 0h0m5 1h0m-38 1h0m24 0h0m-29 1h0m1 1h0m-5 1h0m51 0h0m-14 2h0m10 0h0m2 0h0m-2 2h0m2 2h0m-20 1h0m24 0h0m2 0h0m0 3h0m-27 2h0m11 0h0m-3 1h0m14 1h0m7 0h0m1 1h0m-16 3h0m13 1h0m2 1h0m0 3h0m0 1h0m4 0h0m2 3h0m-8 2h0m3 0h0m2 3h0m-1 2h0m-2 1h0m4 3h0m5 1h0m-3 1h0m4 1h0m-6 1h0m2 1h0m-6 1h0m9 0h0m-7 2h0m3 0h0m4 0h0m1 0h0m-7 5h0m1 0h0m5 3h0m-4 2h0m2 0h0m0 2h0m2 0h0m-3 3h0m-2 1h0m0 3h0m2 1h0m0 4h0m0 1h0m-1 1h0m1 0h0m3 0h0m-1 2h0m-5 7h0m-5 2h0m6 0h0" stroke="#b89c74" stroke-width="1.7" stroke-linecap="square"/>
<path d="M772 108h0m7 1h0m9 0h0m-18 2h0m6 2h0m14 0h0m-6 4h0m3 0h0m-5 4h0m5 0h0m-6 1h0m-172 41h0m1 1h0m-7 2h0m8 0h0m-10 2h0m2 0h0m2 0h0m1 0h0m-11 2h0m5 0h0m6 0h0m4 0h0m2 1h0m-13 1h0m2 0h0m1 0h0m2 0h0m3 0h0m8 0h0m-18 1h0m18 0h0m-19 1h0m4 0h0m1 0h0m1 0h0m7 0h0m-9 1h0m10 0h0m5 0h0m-16 1h0m2 0h0m4 0h0m-7 1h0m12 0h0m2 1h0m-14 1h0m6 0h0m-4 1h0m6 1h0m-5 1h0m4 0h0m-2 1h0m250 32h0m2 0h0m-28 2h0m15 0h0m25 2h0m-30 1h0m-3 1h0m20 0h0m-31 1h0m11 0h0m-13 1h0m7 1h0m2 0h0m3 0h0m-18 1h0m5 1h0m16 0h0m-6 1h0m5 0h0m6 2h0m12 0h0m-29 2h0m13 0h0m35 0h0m-36 1h0m12 0h0m28 0h0m-9 2h0m-57 3h0m43 0h0m3 0h0m-30 1h0m57 0h0m-76 1h0m4 0h0m18 1h0m56 0h0m-59 2h0m-3 3h0m48 0h0m5 0h0m-20 1h0m40 0h0m-1 1h0m-44 1h0m43 0h0m-54 1h0m5 0h0m15 1h0m2 0h0m40 1h0m-1 1h0m-9 1h0m-34 1h0m2 0h0m2 1h0m36 0h0m2 1h0m1 0h0m-34 1h0m-4 1h0m12 1h0m9 0h0m22 4h0m4 0h0m-4 3h0m4 0h0m0 1h0m-4 1h0m4 0h0m-1 1h0m4 6h0m-2 1h0m-2 1h0m3 0h0m0 1h0m-2 1h0m10 2h0m-10 2h0m-2 1h0m5 3h0m3 0h0m0 3h0m0 5h0m5 1h0m-5 2h0m2 3h0m3 6h0m-4 1h0m4 1h0m0 2h0m1 4h0m-3 1h0m-7 1h0m0 2h0m7 0h0m-5 1h0m3 0h0m1 1h0m1 0h0m0 1h0m-2 4h0m4 2h0m-1 1h0m2 1h0m-9 6h0m1 0h0m4 0h0m-6 4h0" stroke="#8a7458" stroke-width="1.7" stroke-linecap="square"/>
<path d="M781 111h0m-5 2h0m4 0h0m-3 1h0m15 2h0m0 2h0m-19 1h0m17 0h0m-6 2h0m-175 41h0m-4 3h0m3 0h0m4 1h0m-8 1h0m7 0h0m-10 1h0m1 0h0m2 0h0m4 0h0m-10 3h0m1 0h0m13 0h0m2 0h0m-19 1h0m12 0h0m1 0h0m3 0h0m-13 2h0m8 0h0m-7 1h0m8 0h0m-9 1h0m8 0h0m0 1h0m2 0h0m-10 1h0m1 0h0m1 0h0m8 0h0m-9 1h0m3 0h0m2 0h0m3 0h0m3 0h0m-11 1h0m2 0h0m-1 1h0m3 0h0m2 1h0m1 0h0m-2 1h0m245 24h0m-21 4h0m22 1h0m-12 1h0m-10 1h0m-12 4h0m33 1h0m7 4h0m0 2h0m12 1h0m-13 2h0m-23 2h0m12 0h0m-9 1h0m35 0h0m-23 1h0m18 0h0m19 0h0m-70 2h0m24 0h0m22 0h0m28 1h0m-4 3h0m-3 1h0m14 0h0m-78 1h0m23 1h0m24 0h0m-3 1h0m-30 1h0m7 0h0m26 1h0m32 1h0m-3 1h0m-21 1h0m27 0h0m-4 1h0m5 0h0m-17 1h0m14 0h0m-26 1h0m30 1h0m-50 1h0m47 0h0m-27 3h0m28 0h0m6 0h0m-5 2h0m6 1h0m-19 3h0m-20 1h0m36 0h0m3 0h0m-21 2h0m-5 2h0m28 1h0m3 1h0m-3 1h0m1 1h0m-7 2h0m10 0h0m0 1h0m1 1h0m-2 2h0m-3 1h0m8 3h0m0 1h0m-7 1h0m6 0h0m3 4h0m-2 1h0m-4 1h0m6 0h0m-2 3h0m0 1h0m2 1h0m2 0h0m-5 1h0m5 4h0m0 3h0m-2 2h0m-1 4h0m5 3h0m-4 6h0m2 1h0m-2 3h0m-3 1h0m3 2h0m4 1h0m-2 2h0m0 3h0m-4 1h0m0 1h0m4 1h0m-2 5h0m-8 1h0m5 0h0m-3 1h0" stroke="#d0b890" stroke-width="1.7" stroke-linecap="square"/>
<path d="M775 110h0m3 7h0m6 2h0m-181 46h0m0 1h0m8 0h0m-8 1h0m1 0h0m8 1h0m-2 1h0m1 0h0m-8 1h0m2 0h0m1 0h0m-7 1h0m3 0h0m3 0h0m3 0h0m-13 1h0m10 0h0m6 0h0m-18 1h0m11 0h0m3 0h0m3 0h0m5 0h0m-11 1h0m-8 1h0m1 0h0m1 0h0m8 0h0m-9 1h0m7 0h0m5 0h0m2 0h0m5 0h0m-18 1h0m16 0h0m-4 1h0m3 0h0m-9 2h0m-1 1h0m4 0h0m-2 1h0m-2 2h0m242 21h0m-9 3h0m6 0h0m7 1h0m-4 1h0m6 2h0m-29 1h0m33 0h0m-30 1h0m23 1h0m-16 2h0m6 0h0m23 0h0m-27 4h0m7 0h0m2 0h0m-31 1h0m24 6h0m3 0h0m-10 1h0m-16 1h0m21 1h0m-15 1h0m41 0h0m-33 2h0m41 0h0m15 0h0m-20 1h0m-15 1h0m-33 1h0m45 0h0m-37 1h0m41 0h0m3 3h0m-5 1h0m-22 1h0m6 0h0m38 0h0m-61 1h0m16 1h0m32 0h0m15 0h0m13 2h0m-40 1h0m9 0h0m6 0h0m23 0h0m0 1h0m1 1h0m3 0h0m-62 1h0m21 0h0m0 1h0m37 0h0m4 0h0m2 0h0m-5 2h0m-46 2h0m36 0h0m10 0h0m1 1h0m6 0h0m-46 1h0m40 0h0m4 0h0m3 0h0m-9 2h0m-15 2h0m5 1h0m4 0h0m12 0h0m3 0h0m-24 1h0m25 3h0m-3 2h0m5 0h0m2 3h0m1 2h0m1 3h0m-1 1h0m-2 1h0m5 0h0m-3 2h0m1 0h0m0 2h0m3 0h0m-1 3h0m1 7h0m1 0h0m4 3h0m-5 2h0m4 0h0m0 1h0m-1 1h0m-1 3h0m-2 1h0m4 2h0m1 3h0m0 4h0m-5 2h0m6 3h0m-6 1h0m1 1h0m0 5h0m-1 1h0m1 1h0m-9 13h0m6 0h0m-3 1h0" stroke="#e0d0b0" stroke-width="1.7" stroke-linecap="square"/>
<path d="M728 61h0m5 0h0m3 3h0m-11 1h0m7 1h0m-2 2h0m6 1h0m-3 2h0m48 39h0m3 2h0m-11 1h0m11 2h0m5 0h0m2 2h0m-17 2h0m-2 1h0m1 1h0m8 0h0m-171 44h0m1 0h0m-9 1h0m1 0h0m8 0h0m-7 1h0m4 0h0m-6 1h0m2 0h0m7 0h0m-9 1h0m3 0h0m1 0h0m6 0h0m-7 1h0m2 0h0m1 0h0m2 0h0m-15 1h0m5 0h0m6 0h0m1 0h0m4 0h0m1 0h0m-9 1h0m5 0h0m1 0h0m1 0h0m4 0h0m-19 1h0m3 0h0m8 0h0m-8 1h0m6 0h0m1 0h0m2 0h0m1 0h0m1 0h0m7 0h0m-20 1h0m2 0h0m7 0h0m3 0h0m1 0h0m-4 1h0m2 0h0m1 0h0m1 0h0m2 0h0m5 0h0m-15 1h0m2 0h0m3 0h0m-7 1h0m11 0h0m1 0h0m-12 1h0m3 0h0m7 0h0m-9 1h0m7 0h0m-2 1h0m246 27h0m-27 5h0m2 2h0m21 4h0m-3 1h0m-24 1h0m21 0h0m9 0h0m2 1h0m-9 5h0m27 0h0m-22 1h0m21 2h0m-57 2h0m30 0h0m-2 2h0m21 0h0m14 0h0m-30 1h0m19 1h0m-4 1h0m-14 1h0m-27 3h0m30 1h0m20 0h0m22 0h0m-59 2h0m26 0h0m-21 1h0m58 1h0m-44 1h0m46 0h0m1 0h0m-68 1h0m48 0h0m-21 1h0m-13 1h0m17 0h0m36 0h0m3 0h0m-17 4h0m17 2h0m-16 1h0m3 0h0m17 0h0m-10 3h0m9 0h0m2 1h0m1 0h0m2 0h0m-3 2h0m-30 1h0m15 0h0m2 0h0m-4 2h0m6 0h0m6 1h0m5 0h0m6 1h0m-2 1h0m-11 3h0m13 0h0m2 1h0m1 0h0m-3 3h0m5 1h0m-3 3h0m-1 3h0m6 3h0m-3 1h0m1 0h0m-3 3h0m3 0h0m3 0h0m-1 2h0m-2 3h0m3 0h0m1 5h0m2 0h0m-4 6h0m1 1h0m1 1h0m-3 1h0m2 1h0m1 1h0m-1 2h0m-1 5h0m1 1h0m1 4h0m-4 1h0m5 4h0m-3 2h0m3 0h0m-6 2h0m1 0h0m1 0h0m-3 3h0m3 0h0m-6 3h0m-6 3h0" stroke="#d8c0a0" stroke-width="1.7" stroke-linecap="square"/>
<path d="M563 244h0m0 1h0m-1 1h0m-2 1h0m6 1h0m-9 1h0m1 0h0m-2 1h0m1 0h0m5 0h0m-6 1h0m6 1h0m1 1h0m-7 1h0m5 0h0m5 2h0m-6 2h0m470 51h0m1 1h0m1 0h0m2 0h0m5 0h0m2 0h0m-2 1h0m-75 19h0m111 0h0m5 0h0m1 0h0m-7 1h0m2 0h0m-2 1h0m-114 1h0m114 0h0m-42 1h0m-69 1h0m1 2h0m1 0h0m67 0h0m-1 1h0m3 0h0m1 1h0m2 1h0m-6 2h0m4 0h0m2 2h0m-4 1h0m4 0h0m-4 2h0m108 15h0m1 2h0m-1 1h0m-95 1h0m96 0h0m1 0h0m2 1h0m-98 2h0m0 5h0" stroke="#3a3038" stroke-width="1.4" stroke-linecap="square"/>
<path d="M562 245h0m1 0h0m-3 2h0m-2 1h0m-1 1h0m0 2h0m7 0h0m2 1h0m-5 1h0m0 1h0m6 1h0m-7 1h0m1 1h0" stroke="#6080a0" stroke-width="1.4" stroke-linecap="square"/>
<path d="M813 69h0m0 2h0m15 0h0m-12 6h0m-391 85h0m9 13h0m5 7h0m-1 7h0m-5 4h0m3 0h0m-7 2h0m-1 2h0m25 2h0m1 4h0m3 1h0m2 3h0m-3 3h0m-6 1h0m4 0h0m-5 2h0m-5 1h0m3 0h0m-2 2h0m-3 1h0m26 8h0m2 3h0m-45 2h0m46 1h0m-42 2h0m40 0h0m-5 3h0m14 5h0m0 3h0m1 0h0m7 8h0m-2 1h0m1 1h0m-4 1h0m-5 4h0m3 0h0m-7 2h0m2 0h0m-22 1h0m35 1h0m0 1h0m3 3h0m1 0h0m-39 1h0m6 3h0m0 2h0m38 0h0m0 1h0m2 2h0m-1 2h0m1 0h0m-4 1h0m1 0h0m-6 3h0m-1 1h0m6 9h0m7 2h0m5 1h0m0 2h0m-6 1h0m-8 1h0m12 0h0m1 0h0m-18 1h0m3 0h0m0 2h0m684 173h0m15 0h0m17 3h0m-26 3h0m35 25h0m-34 5h0m30 5h0m-16 21h0m-7 1h0" stroke="#2a2830" stroke-width="1.3" stroke-linecap="square"/>
<path d="M525 307h0m2 3h0m-7 1h0m-4 3h0m-10 1h0m6 0h0m6 0h0m3 0h0m-30 2h0m16 0h0m23 0h0m-32 1h0m1 1h0m28 0h0m-6 1h0m3 0h0m-33 2h0m4 0h0m11 0h0m16 0h0m-24 1h0m2 0h0m5 0h0m13 0h0m-25 1h0m2 0h0m-3 1h0m1 0h0m3 0h0m1 0h0m6 0h0m-10 1h0m3 0h0m-4 1h0m-7 1h0m5 0h0m-3 1h0m2 0h0m7 0h0m-6 2h0m1 0h0m4 0h0m3 0h0m32 0h0m-43 1h0m41 0h0m-31 1h0m29 0h0m3 0h0m8 0h0m-11 1h0m-3 2h0m5 0h0m9 0h0m-14 1h0m-56 1h0m61 0h0m-57 1h0m64 0h0m-2 1h0m-61 1h0m2 0h0m47 0h0m8 0h0m7 1h0m2 1h0m-70 1h0m55 0h0m9 0h0m-65 1h0m52 0h0m12 0h0m-13 1h0m11 1h0m-18 1h0m10 0h0m-7 1h0m12 0h0m-12 1h0m10 1h0m-14 1h0m-13 1h0m25 0h0m-17 1h0m14 0h0m22 0h0m-24 1h0m1 0h0m33 0h0m-62 1h0m28 0h0m34 0h0m-64 1h0m2 0h0m26 0h0m5 0h0m18 0h0m9 0h0m-96 1h0m40 0h0m21 0h0m5 0h0m2 0h0m22 0h0m10 0h0m-101 1h0m2 0h0m60 0h0m4 0h0m1 0h0m20 0h0m4 0h0m6 0h0m-56 1h0m44 0h0m11 0h0m-113 1h0m5 0h0m54 0h0m41 0h0m10 0h0m6 0h0m-116 1h0m68 0h0m32 0h0m-95 1h0m12 0h0m81 0h0m-38 2h0m5 0h0m35 0h0m10 0h0m3 0h0m-55 1h0m-3 1h0m4 0h0m9 0h0m-63 1h0m51 0h0m6 0h0m44 0h0m-103 1h0m56 0h0m42 0h0m-48 1h0m72 1h0m-2 1h0m-92 4h0m97 1h0m-101 2h0m-3 1h0m6 0h0m97 0h0m-104 1h0m112 0h0m-98 1h0m75 0h0m9 0h0m10 0h0m2 0h0m0 1h0m-100 1h0m2 0h0m96 0h0m-99 1h0m79 0h0m11 0h0m4 0h0m-101 1h0m85 0h0m-87 2h0m101 0h0m-104 2h0m3 0h0m100 0h0m-93 1h0m94 0h0m-99 2h0m95 0h0m23 0h0m-4 1h0m-21 1h0m16 1h0m2 0h0m-4 1h0m2 0h0m1 0h0m5 0h0m-115 1h0m111 0h0m3 0h0m6 0h0m-16 1h0m18 1h0m-19 1h0m19 1h0m-7 1h0m1 1h0m2 0h0m-12 1h0m12 0h0m-1 1h0m1 0h0m-36 1h0m2 1h0m32 0h0m-31 1h0m6 0h0m22 0h0m-35 1h0m4 0h0m33 0h0m-37 1h0m35 0h0m-22 1h0m-11 3h0m8 0h0m-5 1h0m-8 2h0m11 0h0m46 0h0m-55 1h0m4 0h0m55 0h0m-10 1h0m-49 1h0m49 0h0m9 0h0m-7 1h0m9 0h0m-18 1h0m0 1h0m11 0h0m6 0h0m-58 1h0m43 1h0m-44 1h0m1 0h0m54 0h0m-54 1h0m43 0h0m9 0h0m8 0h0m-61 2h0m36 0h0m12 0h0m2 0h0m8 0h0m1 0h0m-21 1h0m21 0h0m-59 1h0m40 0h0m-44 1h0m46 0h0m-51 1h0m1 0h0m46 0h0m-8 1h0m27 0h0m-94 1h0m77 0h0m1 1h0m-83 1h0m73 0h0m-76 2h0m6 0h0m59 0h0m4 0h0m-71 1h0m79 0h0m-83 2h0m69 0h0m12 0h0m5 1h0m-72 1h0m61 0h0m-74 1h0m6 1h0m62 0h0m-73 1h0m11 0h0m68 0h0m-80 1h0m17 0h0m-13 1h0m9 1h0m-6 3h0m67 0h0m16 1h0m-92 2h0m70 0h0m24 0h0m-90 1h0m62 0h0m-80 2h0m76 0h0m4 0h0m14 0h0m-98 1h0m98 0h0m13 0h0m-12 1h0m-23 1h0m5 0h0m-93 1h0m16 0h0m59 0h0m32 0h0m-21 1h0m-86 1h0m6 0h0m86 0h0m-18 1h0m1 1h0m-68 1h0m58 0h0m35 0h0m-42 2h0m3 0h0m-7 2h0m25 1h0m-19 4h0m1 0h0m8 1h0m13 1h0m-1 1h0m-12 1h0m12 0h0m-17 1h0m8 0h0m2 1h0m-14 1h0m-13 2h0m20 1h0m-25 2h0m0 2h0m-8 3h0m5 0h0m-10 1h0m13 0h0m-1 2h0m6 0h0m-5 1h0m2 1h0m-27 1h0m24 2h0m-6 2h0m2 0h0m-22 1h0m5 1h0m19 0h0m2 0h0m2 0h0m-9 1h0m-21 1h0m26 0h0m4 0h0m-7 2h0m-29 1h0m28 0h0m1 0h0m1 0h0m7 0h0m-45 2h0m7 1h0m11 0h0m9 1h0m-18 1h0m0 1h0m18 1h0m-8 1h0m-8 1h0m12 0h0m2 0h0m-13 2h0m-5 4h0m6 1h0m-1 1h0m-2 2h0" stroke="#e8d8d8" stroke-width="1.5" stroke-linecap="square"/>
<path d="M1047 275h0m-16 5h0m13 0h0m4 0h0m1 0h0m-17 3h0m7 0h0m1 2h0m-4 21h0m-1 2h0m-5 1h0m-511 1h0m3 0h0m513 0h0m-514 1h0m-17 1h0m13 0h0m4 0h0m512 0h0m2 0h0m-514 1h0m7 0h0m-9 2h0m5 0h0m5 0h0m-33 1h0m22 0h0m4 1h0m-29 1h0m26 0h0m3 0h0m9 0h0m-34 1h0m10 0h0m19 0h0m-3 1h0m-25 1h0m25 0h0m-33 1h0m-4 1h0m10 0h0m-2 1h0m7 0h0m16 0h0m-30 1h0m6 0h0m7 0h0m19 0h0m-25 1h0m2 1h0m-10 1h0m4 0h0m6 0h0m1 1h0m-12 1h0m9 0h0m-2 1h0m-6 1h0m3 0h0m-4 1h0m43 0h0m-2 1h0m2 0h0m0 1h0m-57 2h0m50 0h0m18 0h0m-17 1h0m3 0h0m5 0h0m8 0h0m-6 1h0m3 1h0m-14 1h0m3 0h0m15 0h0m-17 1h0m11 0h0m4 0h0m-20 1h0m17 1h0m-5 1h0m5 0h0m-20 1h0m1 0h0m4 0h0m7 0h0m-58 1h0m46 1h0m16 0h0m-9 1h0m-4 1h0m6 0h0m-3 2h0m29 0h0m-53 1h0m1 0h0m8 0h0m18 0h0m19 0h0m-44 1h0m8 0h0m14 0h0m2 0h0m-19 1h0m41 0h0m-97 1h0m44 0h0m7 0h0m4 0h0m-12 1h0m30 0h0m-30 1h0m19 0h0m27 0h0m1 0h0m8 0h0m-32 1h0m5 0h0m16 0h0m-41 1h0m4 0h0m18 0h0m2 0h0m17 0h0m2 0h0m6 0h0m-53 1h0m11 0h0m37 0h0m2 0h0m4 0h0m2 0h0m-110 1h0m15 0h0m43 0h0m37 0h0m1 0h0m6 0h0m1 0h0m-98 1h0m50 0h0m51 0h0m6 0h0m-111 1h0m48 0h0m56 0h0m-101 1h0m52 0h0m41 1h0m-101 2h0m61 0h0m41 0h0m11 0h0m-107 1h0m50 0h0m5 0h0m42 0h0m-41 1h0m-2 1h0m44 0h0m-44 1h0m64 0h0m-65 1h0m46 0h0m21 0h0m-88 1h0m69 0h0m-69 1h0m-6 1h0m4 0h0m89 0h0m3 1h0m-94 1h0m92 0h0m-8 1h0m1 0h0m-92 1h0m-2 1h0m91 0h0m6 0h0m-8 1h0m7 0h0m1 1h0m12 0h0m-97 1h0m87 0h0m8 0h0m2 0h0m-96 1h0m86 0h0m1 0h0m0 1h0m-100 1h0m2 0h0m1 0h0m1 0h0m11 0h0m73 0h0m0 1h0m-80 1h0m89 0h0m4 0h0m-100 1h0m100 1h0m-8 1h0m6 0h0m-5 1h0m21 1h0m1 1h0m-7 2h0m-107 1h0m106 0h0m15 0h0m-4 1h0m2 0h0m-6 1h0m3 1h0m6 0h0m-10 1h0m10 2h0m-2 1h0m-35 2h0m22 0h0m-19 1h0m3 0h0m-12 1h0m2 0h0m1 0h0m33 0h0m-34 1h0m33 0h0m-35 1h0m10 0h0m-5 1h0m2 0h0m-14 1h0m36 1h0m-28 1h0m8 0h0m46 1h0m-48 1h0m42 0h0m-40 1h0m40 0h0m8 0h0m-10 1h0m1 0h0m1 0h0m-44 1h0m40 1h0m8 0h0m-10 1h0m5 0h0m1 0h0m4 0h0m-53 1h0m1 0h0m1 0h0m38 0h0m19 0h0m-61 1h0m43 0h0m2 0h0m10 0h0m-58 1h0m1 0h0m64 0h0m-62 1h0m44 0h0m14 0h0m5 0h0m-69 1h0m6 0h0m35 0h0m20 0h0m2 0h0m7 0h0m-7 1h0m-10 1h0m11 0h0m-66 1h0m5 0h0m5 0h0m2 0h0m56 0h0m-69 1h0m67 0h0m-61 1h0m2 0h0m54 0h0m3 0h0m1 0h0m-61 1h0m60 0h0m1 0h0m-18 1h0m4 0h0m11 2h0m-95 1h0m9 4h0m64 0h0m1 0h0m-66 1h0m53 0h0m8 0h0m-75 1h0m14 0h0m49 0h0m17 0h0m-75 1h0m8 0h0m56 0h0m8 0h0m-88 1h0m7 0h0m6 0h0m67 0h0m1 0h0m12 0h0m-94 1h0m12 0h0m79 0h0m2 0h0m-11 1h0m-69 1h0m65 0h0m-76 2h0m13 0h0m-17 2h0m11 1h0m67 1h0m-68 1h0m90 1h0m-8 1h0m-1 1h0m-21 1h0m1 0h0m7 1h0m24 0h0m-119 1h0m1 0h0m114 0h0m-112 1h0m1 0h0m96 1h0m1 0h0m-104 1h0m89 0h0m-91 1h0m102 0h0m196 0h0m-297 1h0m7 0h0m81 0h0m-26 1h0m17 0h0m15 0h0m204 0h0m-218 1h0m7 0h0m208 0h0m-213 2h0m221 0h0m-299 1h0m9 0h0m48 0h0m7 0h0m22 1h0m206 0h0m5 0h0m-298 1h0m68 0h0m2 0h0m-75 1h0m55 0h0m13 0h0m18 0h0m-87 1h0m65 2h0m-5 4h0m19 0h0m-19 1h0m8 0h0m-13 1h0m0 1h0m17 1h0m-15 4h0m6 0h0m-3 1h0m-23 3h0m7 0h0m3 2h0m-20 1h0m17 2h0m-12 1h0m8 0h0m-1 1h0m8 1h0m-10 3h0m-22 1h0m-7 1h0m9 0h0m16 0h0m4 0h0m5 0h0m-7 1h0m-27 1h0m32 0h0m-22 1h0m-16 3h0m11 0h0m-6 1h0m15 0h0m-20 1h0m4 0h0m12 0h0m-22 4h0m10 0h0m11 0h0m-13 2h0m14 0h0m-3 1h0m-8 1h0m1 0h0m1 0h0m10 0h0m-17 1h0m2 0h0m13 0h0m-15 1h0m3 6h0m332 126h0m-9 1h0m19 0h0m4 0h0m-13 1h0m0 1h0m-2 2h0m10 2h0m-12 22h0m0 2h0m8 1h0m-10 1h0m5 0h0m-6 2h0" stroke="#2a2830" stroke-width="1.5" stroke-linecap="square"/>
<path d="M526 309h0m-6 3h0m5 0h0m2 0h0m-9 1h0m4 0h0m6 0h0m-23 1h0m7 0h0m8 0h0m-7 1h0m17 0h0m-36 1h0m14 0h0m11 0h0m-1 1h0m7 0h0m-25 1h0m-10 1h0m11 0h0m-1 1h0m23 0h0m5 0h0m-22 1h0m18 0h0m-19 1h0m-14 2h0m4 0h0m6 0h0m1 0h0m15 0h0m-27 1h0m-2 2h0m11 0h0m-15 1h0m5 0h0m8 0h0m-12 1h0m10 0h0m-6 1h0m1 0h0m3 0h0m1 0h0m-7 1h0m9 0h0m-9 1h0m46 2h0m3 0h0m-12 2h0m-54 2h0m0 1h0m61 0h0m1 0h0m0 1h0m1 0h0m-5 2h0m7 1h0m-70 1h0m1 1h0m59 0h0m9 0h0m-15 1h0m12 0h0m1 0h0m-20 2h0m2 0h0m-2 1h0m10 0h0m-7 1h0m10 0h0m-17 1h0m4 0h0m13 0h0m-30 1h0m22 0h0m2 0h0m5 0h0m19 0h0m1 0h0m3 0h0m-51 1h0m22 0h0m31 0h0m-30 1h0m30 0h0m-105 1h0m45 1h0m2 0h0m47 0h0m-90 1h0m37 0h0m2 0h0m50 0h0m1 0h0m2 0h0m-95 1h0m71 0h0m25 0h0m7 0h0m4 0h0m-106 1h0m45 0h0m57 0h0m-102 1h0m42 0h0m2 0h0m62 0h0m-120 1h0m19 0h0m37 0h0m51 0h0m13 0h0m-52 1h0m37 0h0m6 0h0m-4 1h0m6 0h0m-109 1h0m13 0h0m36 0h0m7 0h0m18 0h0m-80 1h0m65 0h0m15 0h0m-22 1h0m2 0h0m1 0h0m3 0h0m-58 1h0m54 0h0m42 0h0m9 0h0m6 0h0m-59 1h0m7 0h0m49 0h0m-108 1h0m1 0h0m50 0h0m9 0h0m-2 1h0m-4 1h0m1 0h0m44 0h0m1 0h0m20 1h0m0 2h0m-86 1h0m84 0h0m-88 1h0m92 0h0m-92 1h0m86 0h0m8 1h0m2 1h0m-100 1h0m4 0h0m83 0h0m1 0h0m9 1h0m-103 1h0m96 0h0m1 0h0m13 0h0m-1 1h0m-98 1h0m1 0h0m3 0h0m84 0h0m1 0h0m-14 1h0m5 0h0m-89 1h0m13 0h0m2 0h0m83 0h0m-93 1h0m6 0h0m1 0h0m1 0h0m1 0h0m72 0h0m-87 1h0m101 0h0m-95 1h0m-5 1h0m1 0h0m97 0h0m-8 1h0m8 1h0m17 2h0m-22 1h0m1 0h0m-93 3h0m112 1h0m-7 2h0m6 0h0m3 0h0m8 0h0m-9 2h0m-1 1h0m3 0h0m1 1h0m-30 2h0m25 1h0m-27 1h0m-2 1h0m-3 1h0m1 0h0m29 1h0m-27 1h0m9 0h0m-13 1h0m-3 1h0m11 0h0m-8 1h0m6 0h0m1 0h0m-6 1h0m52 0h0m-52 1h0m3 2h0m2 0h0m1 1h0m41 0h0m10 0h0m-59 1h0m41 0h0m1 0h0m15 0h0m-59 1h0m44 0h0m1 0h0m7 0h0m4 0h0m-13 1h0m17 0h0m4 0h0m-66 1h0m6 0h0m1 0h0m38 0h0m-6 1h0m16 0h0m-2 1h0m3 0h0m2 0h0m-58 1h0m8 0h0m-16 1h0m7 0h0m4 0h0m61 0h0m-59 1h0m53 0h0m-56 1h0m1 0h0m46 1h0m-83 1h0m30 2h0m-32 1h0m71 0h0m23 0h0m-28 1h0m27 0h0m-95 1h0m73 1h0m8 0h0m-12 1h0m-74 1h0m70 0h0m-72 1h0m1 0h0m67 0h0m13 0h0m-85 1h0m7 0h0m69 0h0m-76 1h0m2 0h0m84 0h0m-86 1h0m3 0h0m12 0h0m58 0h0m-68 1h0m9 0h0m56 0h0m11 0h0m1 0h0m-83 1h0m1 0h0m4 0h0m6 0h0m7 0h0m58 0h0m-65 1h0m66 0h0m-66 1h0m-19 1h0m6 0h0m-7 1h0m17 0h0m64 0h0m3 0h0m-70 2h0m-1 1h0m64 0h0m-74 2h0m6 0h0m87 1h0m-23 1h0m-67 1h0m59 1h0m27 0h0m1 0h0m6 0h0m-113 1h0m78 0h0m29 0h0m-110 1h0m88 0h0m-21 1h0m12 0h0m8 0h0m14 0h0m-106 1h0m98 0h0m5 0h0m-101 1h0m1 0h0m8 1h0m58 0h0m21 0h0m-93 1h0m5 0h0m60 0h0m37 0h0m-19 1h0m6 0h0m2 0h0m-91 1h0m1 0h0m98 0h0m-37 1h0m-61 2h0m11 0h0m4 0h0m50 1h0m-4 1h0m2 0h0m25 1h0m1 0h0m-30 1h0m-55 1h0m58 1h0m13 1h0m-21 1h0m3 5h0m12 1h0m-29 3h0m1 0h0m23 0h0m-6 1h0m-16 2h0m-11 2h0m8 0h0m-9 1h0m1 0h0m-4 2h0m1 0h0m-1 1h0m15 1h0m-28 3h0m30 0h0m2 1h0m6 2h0m-17 1h0m6 0h0m-9 2h0m8 1h0m-20 1h0m-9 2h0m23 0h0m-13 1h0m13 0h0m-37 1h0m18 0h0m-1 1h0m2 0h0m-10 1h0m-1 1h0m1 0h0m20 2h0m-2 1h0m-17 2h0m14 0h0m-16 1h0m7 0h0m4 1h0m-12 1h0m10 1h0" stroke="#d0b8b8" stroke-width="1.5" stroke-linecap="square"/>
<path d="M659 62h0m-1 1h0m4 3h0m0 1h0m150 60h0m0 2h0m-8 1h0m-87 43h0m0 2h0m1 0h0m3 0h0m-197 134h0m-21 1h0m16 1h0m2 0h0m5 0h0m1 0h0m-7 1h0m-16 1h0m15 0h0m-12 2h0m5 0h0m-5 1h0m15 1h0m1 0h0m3 0h0m-29 1h0m12 0h0m9 0h0m2 0h0m9 0h0m-41 1h0m1 0h0m4 0h0m5 0h0m25 0h0m-29 1h0m27 0h0m3 0h0m-26 1h0m8 0h0m17 0h0m-17 1h0m-11 1h0m6 1h0m-12 1h0m5 0h0m5 0h0m-3 1h0m-10 2h0m3 0h0m2 0h0m5 2h0m37 0h0m-48 1h0m5 0h0m6 0h0m2 0h0m31 0h0m1 0h0m-44 1h0m6 0h0m42 0h0m-47 1h0m1 0h0m40 0h0m-34 1h0m-7 1h0m42 1h0m-58 2h0m2 1h0m-1 1h0m2 0h0m46 0h0m3 0h0m4 0h0m5 0h0m6 0h0m-13 1h0m4 0h0m8 0h0m-71 1h0m4 0h0m1 0h0m66 0h0m1 0h0m-3 2h0m1 0h0m-20 1h0m1 0h0m1 0h0m-3 1h0m7 2h0m-12 2h0m11 0h0m4 0h0m21 0h0m-30 1h0m32 0h0m-39 1h0m16 0h0m20 0h0m-51 1h0m2 0h0m46 0h0m-91 1h0m54 0h0m8 0h0m27 0h0m-96 1h0m5 0h0m44 0h0m48 0h0m-56 1h0m3 0h0m11 0h0m4 0h0m41 0h0m-92 1h0m55 0h0m38 0h0m-55 1h0m-7 1h0m52 0h0m1 0h0m2 0h0m3 0h0m-105 1h0m11 0h0m52 0h0m1 0h0m35 0h0m8 0h0m-106 1h0m12 0h0m45 0h0m-55 1h0m103 0h0m-55 1h0m14 0h0m1 0h0m35 0h0m6 0h0m-41 1h0m46 0h0m-59 1h0m13 0h0m1 0h0m-14 1h0m4 0h0m2 0h0m41 0h0m-99 1h0m105 0h0m-109 1h0m58 0h0m3 0h0m-56 1h0m55 0h0m4 0h0m-4 1h0m2 0h0m-2 1h0m-6 2h0m2 0h0m48 0h0m18 0h0m0 1h0m-89 1h0m3 0h0m82 2h0m1 0h0m8 0h0m-97 1h0m90 0h0m11 1h0m-13 1h0m5 0h0m-100 2h0m11 0h0m79 0h0m1 0h0m19 0h0m-22 1h0m5 0h0m5 0h0m5 0h0m-103 1h0m2 0h0m7 0h0m3 0h0m76 0h0m-72 1h0m72 0h0m12 0h0m3 0h0m-87 1h0m2 0h0m-16 1h0m98 0h0m5 0h0m-93 1h0m90 0h0m-104 1h0m103 0h0m-97 1h0m97 0h0m-2 1h0m17 2h0m4 0h0m-119 1h0m97 0h0m16 0h0m-113 3h0m110 0h0m3 2h0m7 0h0m2 0h0m-7 2h0m3 0h0m-15 1h0m13 0h0m-14 1h0m11 0h0m6 0h0m4 0h0m-11 1h0m5 0h0m-29 1h0m30 0h0m-32 1h0m27 0h0m1 0h0m5 0h0m1 0h0m-8 1h0m5 0h0m-36 1h0m1 1h0m9 0h0m-12 1h0m1 0h0m1 0h0m32 0h0m-35 1h0m2 0h0m29 0h0m-21 1h0m26 0h0m-31 1h0m1 0h0m26 0h0m-22 1h0m21 0h0m-35 1h0m20 0h0m-20 1h0m60 0h0m2 0h0m-58 2h0m8 0h0m2 0h0m50 1h0m-61 1h0m8 0h0m-8 1h0m9 1h0m44 0h0m4 0h0m5 0h0m-59 1h0m52 0h0m1 0h0m-52 1h0m36 0h0m15 1h0m-54 1h0m53 1h0m-64 1h0m56 0h0m-9 1h0m29 0h0m-76 1h0m60 0h0m-54 1h0m-4 1h0m7 0h0m60 0h0m2 0h0m-69 1h0m46 0h0m20 0h0m-10 1h0m10 0h0m-97 1h0m1 0h0m78 0h0m1 0h0m-82 2h0m1 0h0m69 0h0m13 1h0m-19 2h0m21 0h0m-89 1h0m78 0h0m1 0h0m-75 1h0m2 0h0m3 2h0m54 0h0m8 0h0m5 0h0m-86 1h0m85 0h0m-67 1h0m57 0h0m-72 1h0m76 0h0m1 0h0m-81 1h0m77 0h0m12 0h0m-12 1h0m3 0h0m-82 1h0m13 1h0m66 0h0m-81 1h0m76 1h0m-66 1h0m-2 3h0m82 0h0m6 1h0m-15 1h0m15 0h0m6 1h0m-37 1h0m-81 1h0m80 0h0m16 0h0m-97 1h0m77 0h0m3 0h0m20 0h0m1 0h0m-25 1h0m0 1h0m-86 1h0m91 0h0m1 0h0m3 0h0m-89 1h0m61 1h0m9 0h0m14 0h0m-89 1h0m66 0h0m19 0h0m-69 3h0m2 0h0m-8 2h0m49 0h0m20 0h0m10 0h0m1 0h0m-79 1h0m58 1h0m-3 1h0m10 2h0m-15 1h0m-4 6h0m12 1h0m-10 1h0m6 0h0m1 0h0m-21 1h0m-10 2h0m2 0h0m-9 3h0m13 1h0m3 1h0m-15 2h0m10 2h0m3 0h0m1 0h0m-3 2h0m1 1h0m4 0h0m3 0h0m-17 1h0m16 0h0m-30 1h0m33 0h0m-40 1h0m35 0h0m7 0h0m-42 1h0m5 1h0m5 0h0m27 0h0m-9 1h0m2 0h0m2 0h0m267 0h0m-286 3h0m-8 1h0m7 0h0m296 1h0m4 0h0m-324 1h0m17 0h0m305 0h0m-295 2h0m-25 2h0m7 1h0m318 0h0m-10 1h0m-311 1h0m1 0h0m1 0h0m-3 1h0m13 2h0m306 1h0m-316 2h0m303 1h0m12 1h0" stroke="#d0c8d8" stroke-width="1.5" stroke-linecap="square"/>
<path d="M524 309h0m1 0h0m-3 1h0m-19 1h0m24 0h0m1 1h0m-22 1h0m9 0h0m5 1h0m-14 1h0m15 0h0m-30 2h0m28 0h0m-18 1h0m3 0h0m-11 1h0m2 0h0m6 0h0m-12 1h0m8 0h0m2 1h0m5 0h0m16 0h0m5 0h0m-20 1h0m-10 2h0m8 0h0m16 0h0m-27 1h0m-5 1h0m13 0h0m-14 1h0m3 0h0m10 0h0m-13 1h0m3 0h0m4 2h0m40 0h0m1 0h0m-41 1h0m40 1h0m-40 1h0m31 2h0m5 0h0m3 1h0m-10 1h0m15 0h0m-1 1h0m-16 1h0m11 0h0m7 0h0m-69 1h0m-2 1h0m65 0h0m-63 1h0m48 0h0m21 0h0m-2 1h0m-68 1h0m50 1h0m12 0h0m2 0h0m0 1h0m-18 1h0m12 0h0m-13 1h0m8 0h0m6 0h0m-6 1h0m24 1h0m-38 2h0m11 0h0m5 0h0m20 0h0m-94 1h0m75 0h0m-18 1h0m8 0h0m35 0h0m-60 1h0m2 0h0m2 0h0m27 0h0m2 0h0m-2 1h0m1 0h0m18 0h0m-52 1h0m-2 1h0m-37 1h0m36 0h0m6 0h0m64 0h0m-60 1h0m1 0h0m19 0h0m-22 1h0m4 0h0m36 0h0m4 0h0m2 0h0m-102 1h0m94 0h0m6 0h0m1 0h0m1 0h0m-101 1h0m11 0h0m97 1h0m-56 1h0m2 0h0m19 0h0m30 0h0m-110 1h0m6 0h0m56 1h0m3 0h0m36 0h0m-33 1h0m2 0h0m33 1h0m-45 1h0m7 0h0m39 0h0m-98 1h0m54 1h0m46 0h0m-49 1h0m48 0h0m2 0h0m20 0h0m-90 1h0m71 0h0m-69 1h0m85 0h0m-88 1h0m85 2h0m-92 2h0m1 0h0m7 0h0m2 0h0m-3 1h0m4 0h0m76 0h0m3 1h0m-5 1h0m-77 1h0m78 0h0m1 0h0m11 0h0m-89 1h0m3 0h0m84 0h0m5 1h0m2 0h0m-97 1h0m4 0h0m2 0h0m74 0h0m-85 1h0m96 0h0m0 1h0m-98 1h0m5 0h0m-9 2h0m119 0h0m-23 1h0m25 0h0m-118 1h0m94 0h0m20 0h0m-116 1h0m96 0h0m19 0h0m-3 1h0m2 0h0m-1 1h0m2 0h0m8 1h0m1 0h0m-14 1h0m6 0h0m9 0h0m0 1h0m-19 1h0m12 0h0m7 1h0m-21 1h0m11 0h0m3 1h0m-4 1h0m1 0h0m-25 1h0m33 0h0m-35 1h0m23 0h0m10 1h0m-39 1h0m12 0h0m16 0h0m-30 1h0m37 0h0m-32 1h0m-3 2h0m3 0h0m10 0h0m-19 1h0m11 0h0m0 1h0m1 1h0m9 0h0m41 0h0m-60 1h0m57 0h0m-53 1h0m7 0h0m2 0h0m40 0h0m-52 1h0m8 0h0m41 0h0m-38 1h0m43 0h0m-3 1h0m12 1h0m-69 1h0m7 0h0m51 0h0m-54 1h0m5 0h0m38 0h0m15 0h0m-2 1h0m-56 1h0m4 0h0m-9 2h0m2 0h0m3 0h0m57 0h0m3 0h0m-53 1h0m46 0h0m-50 1h0m36 0h0m22 0h0m-68 1h0m9 0h0m45 0h0m12 0h0m-18 1h0m-1 1h0m1 1h0m10 0h0m-8 1h0m-79 1h0m-1 1h0m-2 1h0m65 1h0m4 0h0m-5 1h0m2 0h0m2 0h0m16 1h0m-91 1h0m18 0h0m52 0h0m8 0h0m-70 1h0m5 0h0m1 0h0m1 0h0m-12 2h0m63 0h0m14 0h0m-82 1h0m12 0h0m69 0h0m-67 1h0m-9 1h0m6 0h0m62 0h0m-70 1h0m3 0h0m74 0h0m-87 1h0m16 0h0m70 0h0m-8 1h0m-81 2h0m4 4h0m0 1h0m2 0h0m274 2h0m-5 6h0m2 5h0m2 0h0m-3 7h0m34 177h0m-6 1h0m13 0h0m-7 1h0m19 0h0m-19 1h0m11 0h0m-11 1h0m15 0h0m-3 2h0m6 0h0m-9 1h0m-13 23h0m6 0h0m8 1h0m2 0h0m-16 1h0m-1 3h0m1 0h0m1 0h0m12 1h0m-3 2h0m3 0h0m-5 1h0" stroke="#3a3038" stroke-width="1.5" stroke-linecap="square"/>
<path d="M661 62h0m-1 2h0m-1 2h0m143 58h0m2 1h0m4 0h0m-7 4h0m5 2h0m3 0h0m-80 43h0m-4 1h0m0 3h0m-1 1h0m-1 3h0m-201 127h0m-18 2h0m11 1h0m12 0h0m1 0h0m-1 1h0m-13 1h0m8 1h0m-27 1h0m24 1h0m1 0h0m8 0h0m-10 1h0m-24 1h0m14 0h0m-21 1h0m7 0h0m30 0h0m1 0h0m-30 1h0m12 0h0m15 1h0m-23 1h0m21 0h0m-23 1h0m3 0h0m-13 1h0m8 0h0m-7 1h0m5 0h0m3 3h0m-10 1h0m4 0h0m4 0h0m40 2h0m0 1h0m-38 1h0m30 0h0m-3 2h0m16 0h0m-1 1h0m-18 1h0m3 0h0m8 0h0m9 0h0m-9 1h0m8 0h0m-5 1h0m-7 1h0m1 0h0m12 0h0m-12 1h0m-60 1h0m64 1h0m-59 1h0m44 0h0m-52 1h0m4 1h0m59 0h0m1 0h0m-4 2h0m-11 1h0m32 0h0m-30 1h0m30 0h0m-41 1h0m1 0h0m19 0h0m18 0h0m-38 1h0m18 0h0m26 0h0m-51 1h0m-50 1h0m50 0h0m6 0h0m1 0h0m15 0h0m4 0h0m26 0h0m-60 1h0m1 0h0m48 0h0m-47 1h0m7 0h0m4 0h0m17 0h0m19 0h0m1 0h0m-88 1h0m34 0h0m-35 1h0m62 0h0m22 0h0m7 0h0m-90 1h0m29 0h0m10 0h0m6 0h0m2 0h0m36 0h0m1 0h0m6 0h0m2 0h0m-98 1h0m94 0h0m14 0h0m-122 1h0m15 0h0m43 0h0m12 0h0m40 0h0m7 0h0m-59 1h0m10 0h0m2 0h0m28 0h0m15 0h0m-112 1h0m96 0h0m16 0h0m-58 1h0m-51 1h0m67 0h0m38 0h0m4 0h0m-113 1h0m62 0h0m3 0h0m4 0h0m35 0h0m-48 1h0m8 0h0m2 0h0m45 0h0m-48 1h0m-2 1h0m3 0h0m-5 1h0m46 0h0m-48 1h0m47 0h0m21 1h0m-20 1h0m-71 1h0m-1 1h0m-6 3h0m6 0h0m1 0h0m92 0h0m-8 1h0m3 0h0m-94 1h0m4 0h0m0 1h0m89 0h0m15 0h0m-107 1h0m8 0h0m86 0h0m-3 1h0m9 0h0m-89 1h0m72 0h0m3 0h0m9 0h0m-85 1h0m1 0h0m80 0h0m5 0h0m7 0h0m-108 1h0m8 0h0m5 0h0m76 0h0m-81 1h0m86 0h0m10 0h0m-106 2h0m1 0h0m1 0h0m5 0h0m0 1h0m-4 1h0m1 0h0m92 0h0m1 0h0m0 1h0m21 0h0m1 0h0m-115 1h0m116 0h0m-23 1h0m16 1h0m3 0h0m8 1h0m-119 1h0m121 0h0m-15 1h0m-2 1h0m5 0h0m1 3h0m3 1h0m3 0h0m1 0h0m5 0h0m1 0h0m-37 1h0m2 0h0m33 0h0m-33 1h0m30 0h0m-30 1h0m24 0h0m5 0h0m-28 1h0m26 1h0m1 0h0m-37 1h0m9 1h0m23 0h0m2 0h0m-37 1h0m3 0h0m3 0h0m-7 1h0m5 0h0m3 0h0m9 0h0m-14 1h0m-1 1h0m3 1h0m54 0h0m-58 1h0m13 0h0m41 0h0m1 0h0m-55 2h0m0 1h0m8 0h0m1 0h0m1 0h0m43 0h0m8 0h0m-3 1h0m-13 1h0m2 0h0m9 0h0m-7 1h0m6 0h0m7 0h0m-65 1h0m45 0h0m21 0h0m-9 1h0m3 0h0m-63 1h0m11 0h0m59 0h0m-66 1h0m3 0h0m4 0h0m1 0h0m36 0h0m13 0h0m2 0h0m3 0h0m-55 1h0m-15 1h0m13 0h0m2 0h0m44 0h0m6 0h0m1 0h0m-53 1h0m34 0h0m9 0h0m14 0h0m-60 1h0m2 0h0m2 0h0m36 0h0m1 0h0m16 0h0m9 0h0m-66 1h0m51 0h0m-89 2h0m31 0h0m46 0h0m6 0h0m13 0h0m-8 2h0m-20 1h0m1 1h0m-6 1h0m5 0h0m-6 1h0m4 0h0m-5 1h0m20 0h0m-86 1h0m13 0h0m50 0h0m5 0h0m-68 1h0m7 0h0m2 0h0m3 0h0m50 0h0m3 0h0m5 0h0m4 0h0m-1 1h0m-74 1h0m9 0h0m58 0h0m7 0h0m2 0h0m-14 1h0m2 0h0m5 0h0m6 0h0m1 0h0m-85 1h0m15 0h0m-4 1h0m60 0h0m-73 1h0m2 0h0m13 0h0m66 0h0m-70 1h0m68 0h0m-70 2h0m63 1h0m-76 1h0m2 1h0m6 0h0m-5 3h0m-16 1h0m84 0h0m9 0h0m-18 1h0m34 0h0m-116 3h0m1 0h0m87 0h0m3 0h0m-93 1h0m83 0h0m4 0h0m18 0h0m-97 1h0m78 0h0m6 1h0m-92 1h0m99 0h0m-88 1h0m49 2h0m9 0h0m-71 1h0m54 0h0m1 1h0m8 1h0m-13 1h0m-45 1h0m2 0h0m50 0h0m2 0h0m5 0h0m1 0h0m4 0h0m-18 1h0m5 0h0m1 1h0m3 0h0m12 0h0m-13 1h0m8 0h0m-2 2h0m13 1h0m-1 1h0m-22 2h0m14 0h0m3 1h0m-30 3h0m19 1h0m-27 5h0m-4 1h0m4 2h0m12 0h0m-9 4h0m2 0h0m1 0h0m1 2h0m-27 2h0m14 0h0m14 0h0m-31 2h0m19 0h0m-31 2h0m18 1h0m-7 1h0m22 0h0m279 0h0m-291 1h0m14 0h0m-23 3h0m9 0h0m-7 1h0m0 2h0m10 0h0m-24 1h0m3 0h0m19 2h0m-3 1h0m295 0h0m-295 1h0m-5 1h0m300 0h0m4 0h0m-314 1h0m7 1h0m0 1h0m298 0h0m-302 1h0m-2 1h0m1 0h0" stroke="#f4f0f0" stroke-width="1.5" stroke-linecap="square"/>
<path d="M526 309h0m-5 2h0m-6 1h0m4 0h0m9 0h0m-21 1h0m10 0h0m3 0h0m-5 1h0m2 0h0m-3 1h0m15 0h0m-32 2h0m31 1h0m-31 1h0m6 0h0m26 0h0m-34 1h0m-1 1h0m8 1h0m1 0h0m3 0h0m14 0h0m-29 1h0m9 0h0m18 0h0m-31 1h0m9 0h0m-3 1h0m1 0h0m2 0h0m2 0h0m2 0h0m-12 1h0m6 0h0m3 0h0m-12 1h0m2 0h0m9 0h0m2 0h0m-4 1h0m3 0h0m-8 1h0m6 0h0m3 0h0m-11 1h0m-2 1h0m8 0h0m37 0h0m-44 1h0m5 0h0m5 1h0m31 1h0m8 0h0m1 1h0m-10 1h0m5 0h0m-6 1h0m2 0h0m8 0h0m-61 1h0m46 0h0m1 1h0m11 0h0m-13 1h0m-2 1h0m21 0h0m1 0h0m1 0h0m-70 1h0m2 0h0m-2 1h0m3 0h0m63 0h0m-71 1h0m1 0h0m56 0h0m-5 1h0m13 1h0m2 0h0m-1 1h0m-20 1h0m11 0h0m4 0h0m-10 1h0m10 0h0m0 1h0m-9 1h0m27 0h0m2 0h0m1 0h0m-39 1h0m12 0h0m3 0h0m-15 1h0m10 0h0m31 0h0m-36 1h0m-64 1h0m45 0h0m8 0h0m17 0h0m32 0h0m-63 1h0m-2 1h0m17 0h0m-5 1h0m55 0h0m-105 1h0m2 0h0m32 0h0m55 0h0m-53 1h0m17 0h0m34 0h0m8 0h0m9 0h0m-40 1h0m25 0h0m-47 1h0m52 0h0m-52 1h0m3 0h0m-2 1h0m19 0h0m21 1h0m17 0h0m-111 1h0m103 0h0m-103 1h0m49 0h0m16 0h0m32 0h0m6 0h0m8 0h0m-51 1h0m1 0h0m-10 1h0m4 0h0m50 0h0m2 1h0m13 3h0m-89 2h0m85 0h0m1 0h0m-87 1h0m88 0h0m1 1h0m-6 1h0m5 0h0m8 0h0m-104 1h0m91 0h0m1 0h0m-90 1h0m86 0h0m5 0h0m-6 1h0m13 0h0m-90 1h0m83 0h0m16 0h0m-110 1h0m87 0h0m16 0h0m-104 1h0m16 0h0m-2 1h0m93 0h0m-96 1h0m3 0h0m90 0h0m1 0h0m-108 1h0m106 0h0m-2 1h0m-94 1h0m83 0h0m0 1h0m10 0h0m-95 1h0m93 0h0m-101 2h0m121 0h0m-24 1h0m-94 1h0m93 0h0m27 1h0m0 1h0m1 0h0m-122 1h0m109 0h0m5 0h0m-2 1h0m10 0h0m2 0h0m-10 1h0m1 0h0m-3 1h0m4 0h0m-15 2h0m1 0h0m15 0h0m1 0h0m-29 1h0m21 0h0m16 0h0m-7 1h0m1 0h0m-8 1h0m6 0h0m-8 1h0m9 0h0m-36 1h0m1 0h0m0 1h0m3 0h0m4 0h0m23 1h0m2 0h0m-33 1h0m2 0h0m-10 1h0m9 0h0m6 0h0m-11 1h0m14 0h0m18 1h0m-29 1h0m3 0h0m-9 1h0m7 0h0m-3 1h0m7 0h0m0 1h0m1 0h0m42 0h0m-47 1h0m5 0h0m42 0h0m-5 1h0m3 0h0m1 0h0m9 0h0m-60 1h0m2 0h0m53 0h0m6 0h0m-15 1h0m-43 1h0m-11 1h0m5 0h0m42 0h0m2 0h0m6 0h0m-44 1h0m36 0h0m6 0h0m8 0h0m4 0h0m-63 1h0m4 0h0m3 0h0m53 0h0m6 0h0m1 0h0m3 0h0m-71 1h0m5 0h0m4 0h0m39 0h0m10 0h0m8 0h0m-60 1h0m38 0h0m13 0h0m-54 1h0m2 0h0m4 0h0m3 0h0m1 0h0m-5 1h0m3 0h0m46 0h0m6 0h0m10 0h0m-66 1h0m39 0h0m4 0h0m17 1h0m-66 2h0m64 0h0m-97 2h0m79 0h0m16 0h0m-99 2h0m1 1h0m1 0h0m63 1h0m3 0h0m8 0h0m1 0h0m-13 1h0m-64 1h0m64 0h0m14 1h0m-79 1h0m10 0h0m65 0h0m-78 1h0m5 0h0m71 0h0m-89 1h0m16 0h0m-9 1h0m14 0h0m-19 1h0m83 0h0m4 0h0m-84 1h0m6 0h0m69 0h0m-65 1h0m-15 1h0m15 0h0m68 0h0m-83 1h0m15 0h0m-14 1h0m1 1h0m74 0h0m1 0h0m-68 1h0m-6 1h0m97 0h0m-11 1h0m3 0h0m-87 1h0m1 0h0m1 0h0m82 0h0m-22 1h0m25 1h0m-112 3h0m2 0h0m67 0h0m-68 1h0m2 1h0m67 1h0m22 1h0m-6 1h0m-16 1h0m-77 1h0m7 1h0m-1 1h0m3 0h0m5 2h0m50 0h0m-60 1h0m8 0h0m56 0h0m-59 2h0m45 0h0m6 0h0m10 0h0m2 0h0m-10 1h0m5 1h0m-10 1h0m16 0h0m0 1h0m-16 1h0m26 0h0m-18 4h0m9 0h0m-9 2h0m6 0h0m-29 1h0m2 0h0m-5 2h0m0 1h0m1 1h0m0 7h0m-8 2h0m11 0h0m-3 2h0m6 0h0m-33 1h0m41 0h0m-10 1h0m9 0h0m-9 1h0m6 0h0m-3 1h0m-14 1h0m12 0h0m-32 1h0m8 3h0m15 0h0m-13 1h0m-12 1h0m8 0h0m6 0h0m-20 1h0m22 1h0m-10 1h0m10 0h0m-8 1h0m-16 1h0m4 1h0m4 0h0m9 0h0m-13 1h0m15 0h0m-10 1h0m8 0h0m-1 2h0" stroke="#c8a898" stroke-width="1.5" stroke-linecap="square"/>
<path d="M522 309h0m-19 1h0m23 0h0m-2 1h0m3 0h0m-7 1h0m-15 1h0m12 0h0m2 0h0m1 0h0m-4 1h0m-10 1h0m12 0h0m-11 1h0m15 0h0m-15 1h0m12 0h0m-24 1h0m24 0h0m-27 1h0m27 0h0m5 0h0m2 0h0m-5 1h0m4 0h0m-34 1h0m14 0h0m1 0h0m14 0h0m1 0h0m-28 1h0m10 0h0m18 0h0m-25 1h0m27 0h0m-37 1h0m16 0h0m16 0h0m-20 1h0m-10 1h0m1 1h0m3 0h0m1 0h0m-7 1h0m4 0h0m-1 1h0m3 0h0m6 1h0m35 0h0m-48 1h0m11 0h0m33 1h0m-43 1h0m1 0h0m41 0h0m-33 1h0m31 0h0m2 0h0m-41 1h0m38 0h0m3 0h0m7 0h0m2 1h0m1 0h0m-9 1h0m-8 1h0m1 0h0m7 0h0m5 0h0m5 0h0m-70 1h0m62 0h0m-59 1h0m45 0h0m9 0h0m5 0h0m1 0h0m3 0h0m-18 1h0m5 1h0m-55 1h0m66 0h0m5 0h0m-68 1h0m48 0h0m13 1h0m-18 2h0m-1 1h0m3 1h0m6 0h0m-12 1h0m2 0h0m7 0h0m-11 1h0m4 0h0m37 1h0m-49 1h0m7 0h0m17 0h0m-18 1h0m2 0h0m12 0h0m5 0h0m-31 1h0m10 0h0m3 0h0m-4 1h0m17 0h0m20 0h0m8 0h0m-98 1h0m39 0h0m2 0h0m9 0h0m44 0h0m9 0h0m-102 1h0m50 0h0m10 0h0m4 0h0m-63 1h0m37 0h0m3 0h0m4 0h0m5 0h0m35 0h0m7 0h0m7 0h0m4 0h0m-67 1h0m12 0h0m16 0h0m2 0h0m30 0h0m-97 1h0m35 0h0m7 0h0m47 1h0m5 0h0m-112 1h0m52 0h0m2 0h0m7 0h0m-54 1h0m10 0h0m42 0h0m47 1h0m-99 1h0m97 0h0m6 0h0m-105 2h0m3 0h0m46 0h0m6 0h0m-3 5h0m-19 1h0m86 1h0m-90 1h0m-2 1h0m88 0h0m-1 1h0m2 0h0m6 0h0m5 0h0m-98 1h0m82 1h0m4 0h0m2 0h0m1 1h0m1 0h0m12 0h0m-110 1h0m3 0h0m4 0h0m1 0h0m-8 1h0m2 0h0m10 0h0m76 0h0m9 0h0m3 0h0m-14 1h0m6 0h0m13 0h0m3 0h0m-94 1h0m84 0h0m5 0h0m-98 1h0m87 0h0m12 0h0m-10 1h0m6 0h0m4 0h0m-103 1h0m4 2h0m90 0h0m-99 1h0m5 0h0m2 0h0m-3 1h0m99 0h0m16 0h0m3 0h0m-119 1h0m118 0h0m-114 2h0m109 2h0m-112 1h0m1 0h0m106 1h0m6 0h0m8 0h0m-7 2h0m-11 1h0m1 0h0m11 0h0m-10 1h0m18 1h0m-35 1h0m34 0h0m-17 2h0m2 0h0m11 0h0m-35 1h0m-2 1h0m27 1h0m7 0h0m-40 1h0m6 0h0m32 0h0m-38 1h0m16 0h0m-13 1h0m-3 1h0m19 0h0m41 1h0m-49 1h0m2 0h0m0 1h0m-8 2h0m6 0h0m1 0h0m2 0h0m42 0h0m-47 1h0m3 0h0m52 0h0m-16 1h0m1 0h0m9 0h0m-54 1h0m50 0h0m3 0h0m7 0h0m-59 1h0m53 0h0m-13 1h0m14 0h0m7 0h0m-60 1h0m34 0h0m2 0h0m-50 2h0m58 0h0m-57 1h0m14 0h0m61 0h0m-23 1h0m6 0h0m3 0h0m-50 1h0m58 0h0m-9 1h0m-11 1h0m-76 2h0m88 0h0m6 0h0m-97 2h0m78 0h0m2 0h0m-13 1h0m-3 1h0m4 1h0m1 0h0m-6 1h0m6 0h0m2 0h0m-78 2h0m1 0h0m5 0h0m3 0h0m80 0h0m-81 1h0m-11 1h0m68 0h0m-68 1h0m4 0h0m9 0h0m55 0h0m-62 1h0m-19 1h0m22 0h0m73 0h0m-75 1h0m1 0h0m-15 1h0m1 0h0m8 0h0m68 0h0m-79 1h0m14 1h0m-2 2h0m84 1h0m-87 1h0m80 0h0m10 0h0m2 0h0m-99 2h0m6 0h0m83 1h0m-105 1h0m1 0h0m115 0h0m-100 1h0m59 1h0m1 0h0m-87 2h0m85 0h0m-13 2h0m-77 1h0m78 0h0m22 0h0m-22 1h0m29 0h0m-41 1h0m35 0h0m-96 1h0m89 0h0m-85 1h0m-3 1h0m3 1h0m7 1h0m-11 1h0m7 0h0m1 0h0m42 0h0m36 0h0m-86 1h0m7 0h0m3 0h0m51 0h0m1 0h0m-62 2h0m52 0h0m14 0h0m7 0h0m-73 1h0m66 0h0m-14 2h0m15 0h0m-12 1h0m11 0h0m1 0h0m11 0h0m-18 1h0m7 0h0m4 1h0m4 0h0m2 0h0m-15 2h0m-2 1h0m6 0h0m-12 1h0m9 0h0m-21 1h0m18 1h0m-31 3h0m5 0h0m2 1h0m-9 1h0m10 1h0m-3 1h0m1 0h0m2 0h0m2 0h0m-4 1h0m5 1h0m-5 1h0m1 2h0m3 0h0m-2 2h0m-22 2h0m24 0h0m-12 1h0m-19 2h0m36 0h0m-43 3h0m3 0h0m30 1h0m-21 3h0m-9 1h0m-8 2h0m9 1h0m19 0h0m-7 1h0m3 0h0m-21 1h0m1 1h0m17 1h0m-15 2h0m1 1h0m9 0h0m-2 1h0" stroke="#f0e8e8" stroke-width="1.5" stroke-linecap="square"/>
<path d="M520 309h0m6 0h0m-23 2h0m1 1h0m16 0h0m1 0h0m0 1h0m-6 1h0m15 1h0m-35 2h0m13 0h0m-17 1h0m2 0h0m4 0h0m12 0h0m-16 1h0m26 0h0m5 0h0m2 1h0m-31 1h0m12 0h0m18 0h0m-36 1h0m7 0h0m8 0h0m19 0h0m-23 1h0m1 0h0m0 1h0m-10 2h0m5 0h0m2 0h0m1 0h0m-11 1h0m2 0h0m-5 1h0m10 0h0m2 0h0m-8 1h0m1 1h0m4 0h0m38 0h0m-39 1h0m3 0h0m33 2h0m-39 1h0m5 0h0m1 0h0m31 0h0m9 1h0m-7 1h0m-8 1h0m14 0h0m2 0h0m-67 1h0m2 0h0m54 0h0m2 0h0m11 1h0m-65 1h0m45 0h0m-49 1h0m2 0h0m1 0h0m2 0h0m-3 1h0m2 0h0m59 0h0m-62 1h0m55 1h0m-54 1h0m45 0h0m11 2h0m1 0h0m-14 2h0m7 1h0m-13 1h0m5 2h0m7 0h0m2 0h0m25 0h0m-28 1h0m-69 1h0m54 0h0m15 0h0m-76 1h0m44 0h0m2 0h0m8 0h0m11 0h0m-18 1h0m7 0h0m19 0h0m26 0h0m-57 1h0m13 0h0m20 0h0m21 0h0m5 0h0m-61 1h0m16 0h0m16 0h0m1 0h0m31 0h0m-101 1h0m102 0h0m-63 1h0m2 0h0m12 0h0m16 0h0m16 0h0m6 0h0m-108 1h0m8 0h0m74 0h0m-19 1h0m19 0h0m18 0h0m7 0h0m-101 1h0m93 0h0m9 0h0m8 0h0m-112 1h0m54 0h0m53 0h0m6 0h0m-109 1h0m53 0h0m56 0h0m-114 1h0m55 0h0m1 0h0m2 0h0m8 0h0m2 0h0m-65 1h0m59 0h0m50 0h0m-48 1h0m-4 1h0m-2 1h0m68 0h0m-70 1h0m48 1h0m16 2h0m0 1h0m-90 1h0m2 0h0m1 0h0m98 1h0m-103 1h0m8 0h0m-14 1h0m3 0h0m92 0h0m-3 1h0m5 0h0m15 0h0m-22 1h0m-78 1h0m-5 1h0m102 0h0m-8 1h0m-97 1h0m10 0h0m86 0h0m-11 1h0m1 0h0m16 0h0m-107 1h0m13 0h0m-7 1h0m-6 1h0m2 0h0m-1 3h0m2 0h0m95 1h0m15 2h0m2 0h0m9 3h0m-18 2h0m21 0h0m-6 1h0m6 0h0m-22 1h0m12 0h0m-27 1h0m13 0h0m14 0h0m2 0h0m6 0h0m-36 2h0m35 0h0m-37 1h0m29 0h0m5 1h0m-36 1h0m9 0h0m-10 1h0m29 0h0m-29 1h0m1 0h0m1 2h0m6 0h0m-7 2h0m3 0h0m-2 1h0m54 0h0m-53 1h0m2 0h0m-2 1h0m47 0h0m-48 2h0m43 0h0m10 0h0m-52 1h0m-7 1h0m52 0h0m8 0h0m-11 1h0m12 0h0m-58 1h0m53 0h0m3 0h0m-56 1h0m35 0h0m6 0h0m15 0h0m-69 1h0m2 0h0m12 0h0m1 0h0m34 0h0m11 0h0m2 0h0m-49 1h0m35 0h0m20 0h0m-53 1h0m54 0h0m-58 1h0m49 0h0m-51 1h0m1 0h0m43 0h0m23 0h0m-18 3h0m13 0h0m-16 1h0m-2 2h0m6 0h0m-18 1h0m-71 1h0m82 0h0m-13 1h0m12 0h0m-87 1h0m68 0h0m1 0h0m5 0h0m-7 1h0m10 0h0m3 0h0m-79 1h0m13 0h0m57 0h0m9 0h0m2 0h0m-85 1h0m12 0h0m4 0h0m-3 1h0m3 0h0m55 0h0m1 0h0m-74 1h0m1 0h0m80 0h0m1 0h0m1 0h0m-78 1h0m14 0h0m51 0h0m5 0h0m-67 1h0m3 0h0m2 0h0m66 0h0m4 0h0m-87 1h0m75 0h0m1 0h0m-78 1h0m4 0h0m1 0h0m6 0h0m4 0h0m1 0h0m62 0h0m4 0h0m-69 1h0m68 0h0m-63 1h0m63 0h0m-71 2h0m2 1h0m-14 1h0m73 0h0m-63 1h0m-5 2h0m-1 1h0m64 0h0m-4 1h0m18 0h0m-14 1h0m6 0h0m22 1h0m-120 1h0m84 0h0m18 0h0m-103 1h0m4 0h0m83 0h0m5 0h0m-93 1h0m12 0h0m58 0h0m33 0h0m-96 2h0m56 0h0m29 0h0m-16 2h0m-63 1h0m52 1h0m30 0h0m-43 1h0m5 0h0m-46 1h0m2 0h0m73 0h0m-75 1h0m41 0h0m17 0h0m-61 1h0m54 0h0m14 0h0m-72 1h0m49 0h0m6 0h0m8 0h0m-64 1h0m68 0h0m4 0h0m-1 1h0m1 3h0m4 0h0m2 0h0m-4 1h0m3 0h0m-24 1h0m17 0h0m4 0h0m-10 2h0m6 0h0m-11 2h0m-19 1h0m21 1h0m-30 2h0m9 0h0m-8 1h0m5 0h0m4 0h0m-15 1h0m-1 1h0m11 1h0m-5 1h0m7 1h0m6 1h0m-7 2h0m-10 1h0m-1 1h0m13 0h0m-12 1h0m1 2h0m12 0h0m8 0h0m-42 1h0m27 0h0m7 0h0m2 2h0m2 0h0m-11 3h0m-24 1h0m21 0h0m2 0h0m-33 1h0m-6 2h0m20 0h0m-18 1h0m3 0h0m3 0h0m5 4h0m16 0h0m-16 1h0m-8 1h0m9 3h0" stroke="#b89890" stroke-width="1.5" stroke-linecap="square"/>
<path d="M659 66h0m1 0h0m144 58h0m3 0h0m-3 1h0m-1 3h0m2 0h0m5 2h0m-90 42h0m-2 3h0m6 0h0m-4 2h0m5 0h0m0 2h0m3 2h0m-202 128h0m-22 2h0m23 0h0m-10 1h0m10 0h0m-8 1h0m-13 1h0m16 0h0m-1 1h0m-26 1h0m4 0h0m18 0h0m7 0h0m-29 1h0m28 1h0m-5 2h0m7 0h0m-4 1h0m3 0h0m-35 1h0m15 0h0m17 1h0m-30 1h0m4 0h0m2 0h0m1 0h0m3 0h0m-8 1h0m8 0h0m-10 1h0m2 0h0m5 0h0m-13 1h0m4 0h0m8 1h0m-12 1h0m8 0h0m2 0h0m1 0h0m-1 1h0m4 0h0m-12 1h0m7 0h0m35 0h0m3 0h0m1 0h0m-47 1h0m0 1h0m1 0h0m10 0h0m36 1h0m-8 1h0m5 0h0m4 0h0m3 1h0m2 0h0m-16 1h0m8 0h0m-61 1h0m51 0h0m12 0h0m6 0h0m-67 1h0m3 0h0m46 0h0m-51 1h0m48 0h0m10 0h0m-2 2h0m8 0h0m-65 2h0m0 1h0m46 1h0m12 2h0m4 0h0m-23 2h0m6 0h0m2 0h0m30 0h0m-36 1h0m33 1h0m-35 1h0m10 0h0m27 0h0m-97 1h0m45 0h0m47 0h0m1 0h0m2 0h0m7 0h0m-105 1h0m45 0h0m19 0h0m10 0h0m3 0h0m-31 1h0m7 0h0m22 0h0m-69 1h0m69 0h0m27 0h0m4 0h0m-51 1h0m12 0h0m23 0h0m1 0h0m-87 1h0m31 0h0m5 0h0m2 0h0m31 0h0m24 0h0m13 0h0m-40 1h0m20 0h0m-3 1h0m11 0h0m-92 1h0m80 0h0m12 0h0m-96 1h0m4 0h0m42 0h0m19 0h0m38 0h0m-110 1h0m-7 1h0m1 0h0m76 0h0m19 0h0m-95 1h0m57 0h0m52 0h0m-50 1h0m38 0h0m13 0h0m-105 1h0m62 0h0m36 0h0m-43 1h0m1 0h0m1 0h0m46 0h0m1 0h0m-105 1h0m55 0h0m1 0h0m1 0h0m63 1h0m-70 1h0m49 0h0m17 2h0m-17 1h0m18 2h0m-94 1h0m1 0h0m91 0h0m-5 1h0m1 0h0m3 0h0m13 0h0m-109 1h0m7 0h0m-8 1h0m7 0h0m5 0h0m94 0h0m-99 1h0m83 0h0m15 1h0m5 0h0m-101 1h0m84 0h0m-90 1h0m12 0h0m2 0h0m83 0h0m-84 1h0m72 0h0m1 0h0m13 0h0m-98 1h0m11 0h0m-16 1h0m1 0h0m1 0h0m12 0h0m77 0h0m-91 1h0m104 0h0m-104 1h0m11 0h0m-8 1h0m-5 1h0m119 0h0m-116 1h0m0 1h0m97 0h0m22 0h0m-119 1h0m2 1h0m108 1h0m3 0h0m9 0h0m-2 2h0m-16 3h0m1 0h0m-3 1h0m7 0h0m-18 1h0m35 0h0m-14 1h0m8 0h0m3 0h0m-36 1h0m1 0h0m32 0h0m-28 1h0m-8 2h0m7 0h0m-11 1h0m4 0h0m-3 1h0m4 0h0m4 0h0m24 0h0m-37 2h0m0 2h0m35 0h0m-25 1h0m3 0h0m47 0h0m-49 1h0m2 0h0m46 0h0m-51 2h0m-4 1h0m9 0h0m2 0h0m43 0h0m-52 1h0m59 0h0m-16 1h0m-47 1h0m4 0h0m39 0h0m8 0h0m-52 1h0m1 0h0m1 0h0m3 0h0m1 0h0m-7 1h0m43 0h0m1 0h0m1 0h0m-43 1h0m38 0h0m9 0h0m8 0h0m-63 1h0m7 0h0m42 0h0m-49 1h0m5 0h0m48 0h0m-54 1h0m12 0h0m36 0h0m4 0h0m-4 1h0m1 0h0m-40 1h0m1 1h0m51 0h0m6 0h0m-64 2h0m68 0h0m-68 1h0m1 0h0m64 0h0m-99 2h0m71 0h0m11 0h0m-13 1h0m14 0h0m-82 1h0m66 0h0m-3 1h0m20 0h0m-80 1h0m57 0h0m2 0h0m8 0h0m-67 2h0m4 0h0m-11 1h0m68 0h0m-76 2h0m76 0h0m-77 1h0m11 0h0m1 0h0m61 0h0m-76 1h0m18 0h0m-11 1h0m7 0h0m67 0h0m4 1h0m-89 1h0m1 0h0m84 0h0m-86 2h0m101 1h0m-89 1h0m63 0h0m26 0h0m-97 1h0m6 0h0m-5 1h0m3 0h0m84 0h0m-84 1h0m80 0h0m13 0h0m-33 1h0m23 0h0m9 0h0m-113 1h0m97 0h0m0 1h0m-103 1h0m81 0h0m8 0h0m11 0h0m-92 1h0m74 0h0m21 0h0m-106 1h0m1 0h0m82 0h0m10 0h0m8 0h0m-100 1h0m91 0h0m10 0h0m-21 1h0m7 0h0m-27 1h0m9 0h0m4 0h0m14 0h0m7 0h0m-26 2h0m3 0h0m1 0h0m17 0h0m-16 1h0m-12 1h0m-66 1h0m17 0h0m42 0h0m8 0h0m-65 1h0m1 0h0m12 0h0m5 0h0m42 0h0m1 0h0m25 0h0m2 0h0m-81 1h0m5 0h0m1 0h0m58 0h0m-19 1h0m6 0h0m18 0h0m-69 1h0m45 0h0m-50 1h0m1 0h0m1 0h0m55 0h0m9 1h0m7 0h0m5 3h0m1 1h0m-11 1h0m3 1h0m-1 1h0m-14 1h0m10 1h0m-24 1h0m-5 1h0m5 0h0m-7 3h0m-7 1h0m-1 1h0m9 0h0m-2 1h0m3 1h0m-8 1h0m6 0h0m-5 1h0m10 1h0m0 3h0m-13 1h0m10 0h0m12 3h0m-20 1h0m12 0h0m8 0h0m-45 1h0m12 0h0m0 2h0m24 0h0m268 0h0m12 0h0m-316 4h0m302 0h0m-297 1h0m299 0h0m-286 1h0m-19 1h0m19 3h0m-7 1h0m4 0h0m-20 1h0m2 0h0m12 0h0m6 0h0m-16 1h0m2 0h0m1 0h0m10 0h0m-8 1h0m5 0h0m-7 2h0m6 0h0m308 1h0m-318 1h0m307 0h0m-302 1h0m1 0h0" stroke="#e8e4ec" stroke-width="1.5" stroke-linecap="square"/>
<path d="M527 310h0m-8 4h0m-11 1h0m8 0h0m0 1h0m12 0h0m-33 1h0m1 0h0m20 0h0m2 0h0m-30 1h0m5 0h0m4 0h0m34 0h0m-37 1h0m32 0h0m3 0h0m-22 1h0m16 0h0m-29 1h0m13 0h0m1 0h0m12 0h0m4 0h0m-21 1h0m1 0h0m-18 1h0m5 0h0m5 0h0m1 0h0m4 0h0m0 1h0m17 0h0m-20 1h0m5 0h0m-11 1h0m8 0h0m-10 1h0m6 0h0m1 0h0m-9 1h0m-4 1h0m2 0h0m3 0h0m7 0h0m37 0h0m-38 1h0m-5 1h0m4 0h0m37 0h0m-43 1h0m38 2h0m1 0h0m1 3h0m2 0h0m9 1h0m-20 1h0m-52 1h0m7 0h0m47 0h0m19 1h0m-71 1h0m2 0h0m55 0h0m4 1h0m3 1h0m-18 2h0m15 0h0m-10 1h0m10 0h0m16 3h0m-38 1h0m2 0h0m7 0h0m1 0h0m28 0h0m-25 1h0m3 0h0m20 0h0m4 0h0m-51 1h0m-48 1h0m54 1h0m11 0h0m7 0h0m-32 1h0m30 0h0m20 0h0m1 0h0m-91 1h0m46 1h0m41 0h0m17 0h0m-102 1h0m60 0h0m4 0h0m23 0h0m4 0h0m-50 1h0m1 0h0m61 0h0m-120 1h0m97 0h0m2 0h0m1 0h0m4 0h0m-100 1h0m46 0h0m17 0h0m33 0h0m1 0h0m-104 1h0m54 0h0m10 0h0m-64 1h0m72 0h0m35 0h0m-47 1h0m-60 1h0m8 0h0m55 0h0m42 0h0m-45 1h0m1 0h0m-1 1h0m1 0h0m41 0h0m-36 1h0m-3 1h0m-2 1h0m67 0h0m-71 2h0m50 0h0m13 3h0m-89 1h0m94 0h0m-89 1h0m90 0h0m-92 2h0m-9 1h0m3 0h0m7 0h0m82 0h0m-83 2h0m88 0h0m-85 1h0m75 0h0m11 0h0m3 0h0m-13 1h0m11 0h0m7 0h0m-96 1h0m7 0h0m87 0h0m3 0h0m-93 2h0m75 1h0m-88 1h0m2 0h0m3 0h0m1 0h0m84 0h0m-90 1h0m90 0h0m6 0h0m-96 1h0m96 0h0m-97 1h0m94 0h0m3 2h0m24 0h0m-125 1h0m99 0h0m-98 1h0m125 0h0m-11 1h0m13 0h0m-18 1h0m9 0h0m0 1h0m1 0h0m5 0h0m-4 1h0m-1 1h0m1 0h0m-13 1h0m3 0h0m11 0h0m3 0h0m4 0h0m-2 1h0m-17 1h0m12 0h0m2 0h0m-33 1h0m29 0h0m3 0h0m-6 1h0m-4 1h0m1 0h0m7 0h0m-35 1h0m2 1h0m-6 1h0m3 0h0m32 0h0m1 0h0m-39 1h0m6 0h0m13 0h0m-12 2h0m-6 1h0m7 2h0m54 0h0m1 0h0m-59 2h0m60 2h0m-60 1h0m2 0h0m42 0h0m16 1h0m-14 1h0m-50 1h0m52 0h0m-53 1h0m2 0h0m7 0h0m54 1h0m-68 1h0m10 0h0m1 0h0m2 0h0m49 0h0m-57 1h0m9 0h0m1 0h0m31 0h0m0 1h0m1 0h0m-37 1h0m1 0h0m-5 1h0m4 0h0m57 0h0m2 0h0m1 0h0m-64 1h0m1 0h0m1 0h0m44 0h0m18 0h0m-98 1h0m32 0h0m47 0h0m16 0h0m-95 1h0m68 0h0m10 0h0m7 0h0m-16 1h0m-5 1h0m-69 1h0m66 0h0m4 0h0m4 0h0m-8 1h0m1 0h0m17 0h0m-89 3h0m2 0h0m9 2h0m3 0h0m52 1h0m4 0h0m-81 1h0m3 0h0m79 0h0m-84 1h0m10 0h0m9 0h0m2 0h0m4 0h0m-13 1h0m2 0h0m72 0h0m-70 1h0m3 0h0m-4 1h0m1 0h0m2 0h0m68 0h0m-86 1h0m82 0h0m-81 2h0m11 1h0m-2 1h0m-9 1h0m2 1h0m4 1h0" stroke="#b0a0a0" stroke-width="1.5" stroke-linecap="square"/>
<path d="M391 414h0m1 2h0m1 1h0m1 2h0m1 2h0m5 5h0m2 3h0m-48 6h0m1 2h0m21 4h0m0 2h0m-17 3h0m18 0h0m2 0h0m0 2h0m2 1h0m-20 2h0m2 2h0" stroke="#f0f0d0" stroke-width="1.3" stroke-linecap="square"/>
<path d="M241 429h0m2 4h0m0 1h0m1 0h0m3 34h0m2 1h0m1 14h0m19 3h0m1 1h0m2 0h0m1 0h0m0 1h0m4 2h0m-3 1h0m1 0h0m-4 2h0m-2 1h0m2 0h0m3 0h0m-6 1h0m2 0h0m1 0h0m-3 1h0m5 11h0m16 6h0m1 0h0m1 0h0m0 1h0m6 0h0m-2 3h0m-2 1h0m1 0h0m-3 1h0m-48 2h0m3 0h0m46 0h0m5 13h0m-1 1h0m-1 2h0m-1 2h0m4 8h0m-4 2h0m1 0h0m1 0h0m-4 1h0m4 0h0m-4 1h0m2 0h0m1 0h0m-4 1h0m-3 1h0m3 0h0m34 13h0m1 1h0m12 0h0m1 0h0m0 2h0m1 1h0m-1 1h0m-9 5h0m-47 3h0m1 0h0m-5 1h0m4 0h0m-4 2h0m65 2h0m-71 1h0m-1 1h0m1 0h0m65 2h0m2 0h0m-3 1h0m3 0h0m-6 2h0m-1 1h0m-5 3h0m2 0h0m-4 1h0m1 1h0m-2 1h0m-2 1h0m0 1h0m-49 1h0m46 0h0m-47 1h0m1 0h0m47 0h0m-4 1h0m-49 1h0m1 0h0m3 0h0m16 5h0m2 0h0" stroke="#f0e0b0" stroke-width="1.5" stroke-linecap="square"/>
<path d="M391 509h0m2 1h0m6 5h0m-7 1h0m3 0h0m23 21h0m-175 1h0m172 0h0m1 0h0m5 0h0m-182 1h0m174 0h0m2 0h0m5 0h0m-181 1h0m2 0h0m5 1h0m162 0h0m8 0h0m6 0h0m-180 1h0m4 0h0m163 0h0m1 0h0m1 0h0m3 0h0m3 0h0m1 0h0m3 0h0m-178 1h0m164 0h0m3 0h0m7 0h0m1 0h0m3 0h0m1 0h0m-14 1h0m3 0h0m6 0h0m-110 1h0m104 0h0m5 0h0m-112 1h0m4 0h0m110 0h0m-115 1h0m1 0h0m113 0h0m2 0h0m4 0h0m-168 1h0m56 0h0m-9 1h0m7 0h0m1 0h0m107 0h0m1 0h0m6 0h0m-120 1h0m8 0h0m109 0h0m1 0h0m-172 1h0m5 0h0m49 0h0m115 0h0m1 0h0m1 0h0m-6 1h0m-105 1h0m8 0h0m99 0h0m1 0h0m-110 1h0m2 0h0m9 0h0m98 0h0m-103 1h0m4 0h0m98 0h0m-106 1h0m10 0h0m-8 1h0m2 1h0m-6 1h0m7 0h0m-1 1h0m1 0h0m5 0h0m-7 1h0m6 0h0m-12 1h0m11 0h0m-4 1h0m1 0h0m-7 2h0m30 15h0m-4 1h0m3 1h0m5 0h0m-11 1h0m13 0h0m-10 1h0m1 0h0m3 0h0m4 0h0m-12 1h0m10 0h0m-10 2h0m1 0h0" stroke="#503830" stroke-width="1.5" stroke-linecap="square"/>
<path d="M551 454h0m-5 2h0m-2 1h0m19 0h0m-100 2h0m81 0h0m29 0h0m-111 1h0m78 0h0m1 0h0m27 0h0m-109 1h0m76 1h0m8 0h0m-88 1h0m89 0h0m4 0h0m-96 1h0m92 0h0m0 1h0m3 0h0m-101 1h0m2 0h0m7 0h0m7 0h0m54 1h0m-61 2h0m69 0h0m-60 1h0m70 0h0m-68 1h0m48 1h0m9 0h0m12 0h0m-74 1h0m40 0h0m-39 1h0m47 0h0m17 1h0m12 0h0m-82 1h0m67 1h0m-22 1h0m2 1h0m14 0h0m-9 1h0m13 2h0m1 2h0m-30 6h0m16 0h0m-29 2h0m3 2h0m-5 1h0m7 1h0m4 0h0m-11 2h0m1 2h0m12 0h0m-3 1h0m4 2h0m-26 2h0m29 0h0m-37 1h0m42 0h0m-41 1h0m33 0h0m-5 1h0m4 0h0m2 0h0m2 0h0m-25 1h0m-19 1h0m10 0h0m26 0h0m2 1h0m-36 2h0m4 0h0m16 1h0m-21 2h0m4 2h0m6 2h0m9 0h0m-19 3h0m10 0h0m8 0h0m-11 2h0m6 0h0" stroke="#f0e0a0" stroke-width="1.5" stroke-linecap="square"/>
<path d="M478 474h0m1 4h0m2 0h0m1 4h0m4 7h0m2 1h0m1 3h0m-1 1h0m3 2h0m2 0h0m1 1h0m-1 2h0m-42 1h0m43 1h0m-43 3h0m47 1h0m-45 2h0m4 5h0m0 2h0m2 2h0m1 1h0m1 2h0m-32 4h0m34 0h0m1 0h0m1 0h0m-30 3h0m-1 1h0m32 0h0m-33 1h0m-10 1h0m1 7h0m16 1h0m1 2h0m0 1h0m0 1h0m1 0h0m-16 2h0m0 1h0" stroke="#f0e0a0" stroke-width="1.4" stroke-linecap="square"/>
<path d="M606 494h0m-4 1h0" stroke="#c08868" stroke-width="1.2" stroke-linecap="square"/>
<path d="M608 497h0m-11 3h0m23 3h0m-22 1h0m-2 1h0" stroke="#e0b090" stroke-width="1.2" stroke-linecap="square"/>
<path d="M597 495h0m19 0h0m-10 2h0m-13 3h0" stroke="#8a5a40" stroke-width="1.2" stroke-linecap="square"/>
<path d="M616 497h0" stroke="#a87050" stroke-width="1.2" stroke-linecap="square"/>
<path d="M604 497h0m3 6h0" stroke="#d0a080" stroke-width="1.2" stroke-linecap="square"/>
<path d="M609 496h0" stroke="#b07858" stroke-width="1.2" stroke-linecap="square"/>
<path d="M463 64h0m-136 26h0m-25 2h0m164 18h0m-56 1h0m-58 9h0m52 7h0m157 2h0m42 0h0m-377 1h0m256 6h0m-146 3h0m70 6h0m193 7h0m-89 4h0m8 1h0m-246 1h0m145 22h0m104 6h0m-289 9h0m308 0h0m-207 3h0m93 9h0m-78 6h0m139 1h0m114 2h0m-191 33h0m-173 1h0m211 4h0m-124 10h0m89 3h0m163 7h0m-150 2h0m-20 12h0m-80 12h0m169 12h0m-242 1h0m118 22h0m-35 3h0m-47 4h0m280 0h0m-326 8h0m33 13h0m152 4h0m48 0h0m98 5h0m39 13h0m-113 1h0m100 0h0m-187 2h0m-18 4h0m112 0h0m-95 2h0m20 2h0m207 0h0m-181 9h0m-205 2h0m316 0h0m-320 1h0m218 3h0m44 3h0m-59 15h0m104 14h0m-61 4h0m-199 6h0m219 4h0m33 20h0m75 8h0m-284 8h0m66 23h0m-51 2h0m209 9h0m-179 1h0m-71 1h0m-26 10h0m213 4h0m-217 1h0m45 2h0m-69 6h0m311 1h0m-129 5h0m-20 1h0m-166 25h0m163 0h0m216 2h0m-332 14h0m92 12h0m42 6h0m135 0h0m-232 5h0m289 0h0m-333 7h0m124 4h0m1 3h0m169 1h0m-21 5h0m-117 1h0m84 7h0m-49 6h0m-81 1h0m-155 2h0m79 2h0m-9 5h0m216 5h0m-226 4h0m183 13h0m8 0h0" stroke="#c09070" stroke-width="1.2" stroke-linecap="square"/>
<path d="M283 364h0m-19 5h0m-20 13h0m182 20h0m105 1h0m5 8h0m86 8h0m-271 5h0m123 3h0m17 3h0m-129 1h0m202 4h0m-323 2h0m342 9h0m-96 9h0m34 1h0m-171 9h0m80 37h0m-164 10h0m-26 5h0m392 0h0m-114 4h0m17 1h0m-268 12h0m137 16h0m-2 8h0m125 13h0m-64 14h0m66 5h0m-285 4h0m319 8h0m-94 10h0m-27 5h0m120 10h0m59 11h0m-8 8h0m-6 11h0m-155 1h0m29 3h0m-146 1h0m-45 3h0m61 9h0" stroke="#f0f0e0" stroke-width="1.2" stroke-linecap="square"/>
<path d="M619 367h0m-43 1h0m48 13h0m-267 8h0m-95 8h0m220 1h0m-217 5h0m84 4h0m-78 1h0m-28 8h0m102 10h0m109 2h0m77 11h0m-86 1h0m-192 6h0m73 3h0m1 2h0m309 1h0m-395 8h0m382 4h0m-153 1h0m-119 4h0m239 23h0m-246 21h0m174 2h0m-2 14h0m72 7h0m-131 3h0m115 15h0m-309 7h0m301 0h0m-277 3h0m230 10h0m-50 4h0m-36 1h0m98 0h0m84 17h0m25 0h0m-153 1h0m-7 4h0m-36 4h0m28 6h0m111 10h0m-6 28h0m-10 3h0m-242 14h0m-31 5h0m130 13h0m-177 3h0" stroke="#102030" stroke-width="1.2" stroke-linecap="square"/>
<path d="M267 63h0m42 0h0m-44 4h0m184 1h0m-192 1h0m181 6h0m-186 5h0m119 6h0m138 11h0m-195 11h0m317 3h0m-274 12h0m0 7h0m118 26h0m30 12h0m67 0h0m-108 28h0m5 3h0m162 8h0m-306 1h0m-84 1h0m381 1h0m-379 8h0m68 6h0m17 4h0m147 8h0m-229 1h0m57 1h0m265 7h0m-336 1h0m335 2h0m-81 2h0m46 8h0m12 4h0m-258 1h0m291 0h0m7 3h0m-64 9h0m-130 27h0m188 11h0m-97 2h0m1 3h0m-126 7h0m196 6h0m-139 7h0m7 6h0m-7 2h0m-183 6h0m43 2h0m210 7h0m2 2h0m78 4h0m-73 4h0m126 2h0m-311 4h0m-5 5h0m199 11h0m105 0h0m-42 4h0m-85 3h0m44 25h0m101 0h0m-10 10h0m-193 9h0m36 15h0m-196 7h0m48 3h0m12 11h0m151 0h0m-195 10h0m193 7h0m-160 8h0m141 13h0m108 12h0m-263 2h0m-9 5h0m202 1h0m-24 11h0m-56 4h0m-116 14h0m126 1h0m82 0h0m24 18h0m92 0h0m-124 1h0m-120 14h0m61 3h0m24 8h0m154 5h0m-232 10h0m211 10h0m-347 5h0m59 7h0m193 3h0m-128 2h0m24 6h0m172 6h0m-172 4h0m36 0h0m120 9h0" stroke="#e8d8c8" stroke-width="1.2" stroke-linecap="square"/>
<path d="M455 70h0m16 3h0m73 17h0m-228 4h0m98 3h0m197 4h0m-236 5h0m-121 1h0m14 1h0m318 8h0m-297 1h0m207 10h0m69 9h0m-20 11h0m75 9h0m-243 2h0m-31 1h0m92 16h0m9 4h0m-185 5h0m185 15h0m168 0h0m38 3h0m16 1h0m3 2h0m35 1h0m-56 1h0m-17 1h0m36 0h0m3 2h0m15 0h0m-50 1h0m37 0h0m15 0h0m40 1h0m1 0h0m-71 2h0m-343 2h0m329 4h0m103 0h0m-105 1h0m31 0h0m61 0h0m-20 1h0m-60 2h0m-11 4h0m86 2h0m-97 2h0m63 2h0m-24 1h0m48 0h0m-73 1h0m102 0h0m-84 1h0m67 0h0m23 0h0m-11 3h0m-43 6h0m-53 2h0m88 0h0m-71 1h0m38 4h0m47 0h0m7 1h0m-90 3h0m-3 1h0m41 4h0m23 2h0m2 0h0m-6 3h0m-66 1h0m86 0h0m-26 2h0m-364 1h0m-65 1h0m412 0h0m22 0h0m-62 1h0m-27 4h0m113 1h0m-467 2h0m69 1h0m282 0h0m96 0h0m-84 2h0m-130 6h0m194 3h0m13 0h0m-63 1h0m-23 1h0m47 1h0m-158 2h0m189 1h0m16 4h0m-143 3h0m71 2h0m16 1h0m85 1h0m-106 2h0m43 0h0m18 0h0m-72 1h0m27 0h0m46 0h0m-382 1h0m299 0h0m18 2h0m-3 6h0m0 1h0m109 4h0m-18 3h0m-36 1h0m-204 1h0m-143 1h0m370 5h0m2 3h0m-27 1h0m-307 6h0m353 0h0m-26 2h0m-480 1h0m39 4h0m20 1h0m-24 2h0m421 0h0m-126 7h0m-18 8h0m-255 7h0m64 4h0m132 1h0m-127 4h0m110 1h0m157 0h0m-12 6h0m-127 2h0m-151 1h0m-97 7h0m308 7h0m-150 16h0m-134 1h0m254 1h0m-34 2h0m77 0h0m-164 11h0m-36 2h0m200 3h0m48 1h0m-296 2h0m259 5h0m-228 4h0m-68 1h0m46 9h0m193 5h0m-244 11h0m13 7h0m-6 12h0m200 2h0m-191 6h0m-51 5h0m174 38h0m-119 5h0m53 1h0m-92 5h0m78 3h0m158 5h0m-166 2h0m-71 15h0m0 7h0m165 14h0m-2 15h0m-28 11h0m178 12h0m-143 6h0m172 13h0m18 0h0m-116 1h0m14 1h0m-165 10h0" stroke="#203040" stroke-width="1.2" stroke-linecap="square"/>
<path d="M877 53h0m2 5h0m3 0h0m0 1h0m-16 2h0m1 0h0m7 0h0m-5 2h0m15 0h0m-22 2h0m-3 1h0m1 0h0m3 0h0m-2 2h0m-21 2h0m13 0h0m-18 2h0m13 2h0m-13 1h0m-9 1h0m1 2h0m6 2h0m-8 2h0m0 1h0m1 1h0m-10 2h0m-157 1h0m9 1h0m139 0h0m-147 1h0m132 0h0m-142 1h0m6 0h0m9 0h0m-16 1h0m118 0h0m-110 1h0m9 1h0m111 0h0m20 0h0m-116 2h0m93 0h0m-2 1h0m-93 1h0m68 2h0m-64 1h0m12 0h0m2 1h0m30 0h0m34 0h0m-70 1h0m17 0h0m4 0h0m5 0h0m16 0h0m6 0h0m9 0h0m-64 1h0m66 0h0m-39 1h0m36 0h0m-57 1h0m20 0h0m10 0h0m24 0h0m17 0h0m-36 1h0m36 0h0m5 0h0m2 0h0m2 0h0m-68 1h0m3 0h0m-4 1h0m21 0h0m2 0h0m43 1h0m2 8h0m1 0h0m-3 3h0m-5 2h0m5 0h0m3 3h0m-2 4h0m-5 9h0m6 3h0" stroke="#d8d4d0" stroke-width="1.6" stroke-linecap="square"/>
<path d="M876 60h0m6 2h0m-12 1h0m-5 3h0m-18 4h0m9 1h0m-23 2h0m4 1h0m4 3h0m-13 1h0m7 0h0m-184 2h0m169 0h0m13 0h0m6 0h0m-19 1h0m3 1h0m-12 2h0m-159 1h0m157 1h0m-157 1h0m7 0h0m157 0h0m-162 1h0m157 0h0m-160 1h0m128 0h0m9 0h0m-127 1h0m133 0h0m2 0h0m-135 1h0m128 0h0m-139 1h0m15 0h0m3 0h0m105 0h0m12 0h0m1 0h0m-110 3h0m60 0h0m17 0h0m32 0h0m-97 1h0m73 0h0m6 0h0m5 0h0m-94 2h0m86 0h0m-86 1h0m96 0h0m-75 1h0m49 0h0m6 0h0m-48 1h0m14 0h0m13 0h0m6 0h0m9 0h0m15 0h0m15 0h0m-58 1h0m1 0h0m-32 1h0m3 0h0m9 0h0m18 0h0m2 0h0m12 0h0m8 0h0m-26 1h0m2 0h0m31 0h0m19 0h0m-40 1h0m11 0h0m10 0h0m-33 1h0m7 0h0m10 0h0m28 0h0m-57 1h0m67 0h0m-66 1h0m59 0h0m-37 1h0m43 1h0m2 1h0m-9 6h0m-1 3h0m0 3h0m4 15h0m-2 1h0" stroke="#b8b0c8" stroke-width="1.6" stroke-linecap="square"/>
<path d="M862 64h0m19 0h0m-17 2h0m4 0h0m-11 1h0m0 1h0m9 0h0m-21 2h0m3 0h0m6 1h0m7 0h0m-36 9h0m3 1h0m-28 1h0m30 0h0m-31 2h0m-149 1h0m161 0h0m-152 1h0m164 0h0m-30 1h0m-147 1h0m14 0h0m144 0h0m11 0h0m-9 1h0m16 0h0m-21 1h0m-149 1h0m142 0h0m6 0h0m-135 1h0m1 0h0m133 0h0m-123 2h0m89 0h0m-91 1h0m90 1h0m18 0h0m-17 1h0m15 0h0m-80 1h0m40 0h0m10 0h0m2 0h0m-61 1h0m38 0h0m24 0h0m-11 1h0m4 0h0m18 0h0m-32 1h0m8 0h0m-41 1h0m60 0h0m-47 1h0m25 0h0m9 0h0m-58 1h0m42 0h0m12 0h0m-17 1h0m-24 1h0m6 0h0m1 0h0m-18 1h0m14 0h0m4 0h0m10 0h0m2 0h0m-5 3h0" stroke="#6a5a58" stroke-width="1.6" stroke-linecap="square"/>
<path d="M879 62h0m-23 2h0m14 3h0m-12 1h0m-2 1h0m11 0h0m-19 1h0m-7 1h0m9 0h0m-4 2h0m-13 3h0m10 0h0m-11 3h0m2 0h0m11 0h0m-31 3h0m12 0h0m-175 1h0m170 0h0m0 2h0m-21 1h0m5 0h0m1 0h0m-162 2h0m11 0h0m147 0h0m5 0h0m-12 2h0m9 0h0m-141 3h0m7 0h0m8 1h0m103 0h0m-4 2h0m14 0h0m-117 1h0m91 0h0m14 0h0m-50 1h0m13 0h0m3 0h0m2 0h0m2 0h0m18 0h0m13 0h0m9 0h0m-28 1h0m1 0h0m3 0h0m-72 1h0m70 0h0m5 0h0m-39 1h0m20 0h0m5 0h0m-63 1h0m74 0h0m-78 1h0m49 0h0m-54 1h0m45 0h0m16 0h0m20 0h0m-47 1h0m16 0h0m32 0h0m-44 1h0m51 6h0m-6 1h0m6 0h0m-3 6h0m0 2h0m1 4h0m2 0h0m-8 5h0m1 0h0m-1 2h0m3 0h0m-5 1h0m7 4h0" stroke="#686460" stroke-width="1.6" stroke-linecap="square"/>
<path d="M880 55h0m1 2h0m-1 6h0m-19 1h0m12 0h0m-14 3h0m-11 1h0m-3 1h0m8 0h0m10 0h0m-6 2h0m-11 1h0m-19 2h0m10 2h0m5 1h0m-7 1h0m1 1h0m-17 2h0m-2 2h0m11 0h0m-21 1h0m7 1h0m-155 1h0m147 1h0m2 0h0m-146 1h0m137 0h0m16 0h0m-156 1h0m16 0h0m-2 1h0m103 0h0m25 0h0m-138 1h0m2 0h0m8 0h0m113 0h0m-118 2h0m1 0h0m108 0h0m17 2h0m13 0h0m-147 1h0m110 0h0m-23 1h0m23 0h0m-94 1h0m72 0h0m16 0h0m-83 1h0m61 0h0m-67 1h0m65 0h0m29 0h0m28 0h0m-107 1h0m73 0h0m-80 1h0m62 0h0m-26 1h0m16 1h0m-24 1h0m39 0h0m19 0h0m3 0h0m-59 1h0m6 2h0m53 0h0m-73 2h0m62 2h0m2 0h0m-4 4h0m9 1h0m-4 4h0m6 0h0m-10 6h0m9 0h0m-2 3h0m-6 2h0m2 7h0m5 0h0" stroke="#c8c4c0" stroke-width="1.6" stroke-linecap="square"/>
<path d="M876 59h0m-7 2h0m13 0h0m-10 2h0m-11 2h0m8 1h0m-11 1h0m16 1h0m-17 1h0m-22 1h0m14 1h0m-8 2h0m-12 4h0m0 2h0m10 2h0m-186 2h0m158 0h0m11 0h0m-177 2h0m10 0h0m164 0h0m-2 1h0m-164 1h0m145 0h0m-152 1h0m9 0h0m153 0h0m-149 1h0m22 0h0m124 0h0m-154 1h0m159 0h0m2 0h0m-154 1h0m159 0h0m-156 1h0m120 0h0m3 0h0m7 0h0m18 1h0m-132 1h0m125 0h0m-32 1h0m-8 1h0m26 0h0m-104 1h0m71 0h0m5 0h0m2 0h0m9 0h0m1 0h0m-91 1h0m96 0h0m12 0h0m-107 1h0m86 0h0m-82 2h0m10 0h0m62 0h0m1 0h0m4 0h0m-72 1h0m10 0h0m17 0h0m1 0h0m13 0h0m33 0h0m2 0h0m1 0h0m4 0h0m1 0h0m-78 1h0m26 0h0m6 0h0m21 0h0m13 0h0m7 0h0m-73 1h0m1 1h0m8 1h0m14 0h0m45 3h0m9 9h0m-9 2h0m-3 2h0m11 0h0m-11 3h0m9 0h0m-3 6h0m-6 1h0m2 8h0" stroke="#ffffff" stroke-width="1.6" stroke-linecap="square"/>
<path d="M877 58h0m11 0h0m-6 1h0m2 0h0m-7 2h0m-11 1h0m11 0h0m-13 1h0m3 0h0m2 0h0m2 0h0m1 0h0m-6 1h0m-1 1h0m-15 1h0m15 0h0m-23 1h0m12 0h0m19 0h0m-34 1h0m11 0h0m4 0h0m12 0h0m-23 1h0m4 0h0m5 0h0m2 0h0m10 0h0m-19 3h0m0 1h0m3 0h0m-13 1h0m21 0h0m-28 1h0m4 0h0m7 0h0m6 0h0m-20 1h0m4 0h0m4 0h0m10 1h0m-22 1h0m9 0h0m-1 1h0m-5 1h0m1 0h0m2 0h0m-14 1h0m9 0h0m4 0h0m-21 1h0m19 0h0m-169 3h0m5 0h0m154 0h0m-157 1h0m13 0h0m133 0h0m7 0h0m-160 1h0m3 0h0m2 0h0m9 0h0m132 0h0m17 0h0m-163 1h0m2 0h0m3 0h0m159 0h0m-16 1h0m8 0h0m8 0h0m-159 1h0m131 0h0m16 0h0m-152 1h0m147 0h0m5 0h0m4 0h0m-157 1h0m8 0h0m128 0h0m5 0h0m10 0h0m-135 1h0m124 0h0m5 0h0m6 0h0m5 0h0m-138 1h0m1 0h0m9 0h0m99 0h0m31 0h0m-144 1h0m91 0h0m6 0h0m1 0h0m11 0h0m-100 1h0m99 1h0m7 0h0m11 0h0m-53 1h0m7 0h0m21 0h0m1 0h0m3 0h0m16 0h0m6 0h0m-109 1h0m34 0h0m27 0h0m11 0h0m15 0h0m-90 1h0m16 0h0m17 0h0m4 0h0m19 0h0m11 0h0m-54 1h0m1 0h0m3 0h0m17 0h0m6 0h0m7 0h0m37 0h0m-61 1h0m42 0h0m11 0h0m4 0h0m-49 1h0m5 0h0m24 0h0m9 0h0m-20 1h0m10 0h0m6 0h0m20 0h0m6 0h0m-67 1h0m6 0h0m18 0h0m7 0h0m-24 1h0m2 0h0m19 0h0m34 0h0m-5 3h0m-48 1h0m59 1h0m-8 1h0m2 1h0m8 3h0m-13 1h0m10 0h0m2 9h0m1 0h0m-4 4h0m-4 8h0m6 1h0" stroke="#e8e4ec" stroke-width="1.6" stroke-linecap="square"/>
<path d="M866 58h0m12 1h0m-10 1h0m9 0h0m3 0h0m-4 1h0m8 1h0m-11 1h0m-17 1h0m2 0h0m1 0h0m14 0h0m1 0h0m-25 1h0m18 0h0m11 0h0m1 0h0m-4 1h0m6 0h0m-36 1h0m9 0h0m-4 1h0m5 1h0m-3 1h0m1 0h0m4 0h0m6 0h0m-24 1h0m19 0h0m-29 1h0m4 0h0m23 0h0m7 0h0m-31 1h0m7 2h0m7 0h0m1 1h0m-20 1h0m14 0h0m-22 1h0m7 1h0m10 1h0m-9 2h0m-182 1h0m173 0h0m9 0h0m-177 1h0m1 0h0m159 1h0m-162 1h0m9 0h0m156 0h0m6 0h0m-164 1h0m4 0h0m17 0h0m129 0h0m9 0h0m-10 1h0m1 0h0m-151 1h0m4 0h0m1 0h0m2 0h0m12 0h0m112 0h0m12 0h0m30 0h0m-32 1h0m29 0h0m-61 1h0m-100 1h0m15 0h0m87 0h0m15 0h0m16 0h0m5 0h0m1 0h0m-14 1h0m-127 1h0m7 0h0m100 0h0m21 0h0m8 0h0m-124 1h0m3 0h0m95 0h0m18 0h0m1 0h0m10 0h0m-140 1h0m104 0h0m11 0h0m-98 1h0m4 0h0m5 0h0m43 0h0m12 0h0m10 0h0m15 0h0m-71 1h0m33 0h0m16 0h0m4 0h0m26 0h0m-98 1h0m2 0h0m10 0h0m22 0h0m10 0h0m-3 1h0m26 0h0m5 0h0m6 0h0m-23 1h0m19 0h0m4 0h0m9 0h0m-41 1h0m7 0h0m4 0h0m3 0h0m19 0h0m14 0h0m-92 1h0m14 0h0m21 0h0m7 0h0m25 0h0m-51 1h0m5 0h0m8 0h0m16 0h0m6 0h0m43 0h0m-84 1h0m13 0h0m12 0h0m7 0h0m14 0h0m-42 1h0m3 0h0m1 0h0m18 0h0m17 0h0m-33 1h0m-3 1h0m4 0h0m67 2h0m-5 2h0m4 1h0m8 1h0m-2 2h0m-3 2h0m-4 1h0m-2 1h0m10 3h0m-8 2h0m5 2h0m-3 1h0m7 3h0m-5 5h0" stroke="#d0c8d8" stroke-width="1.6" stroke-linecap="square"/>
<path d="M877 53h0m-4 6h0m-14 3h0m-8 3h0m16 0h0m7 0h0m-18 2h0m-1 1h0m7 0h0m-7 1h0m-7 1h0m1 1h0m13 1h0m-27 4h0m-7 1h0m-2 1h0m2 4h0m-17 4h0m-157 1h0m147 0h0m14 0h0m-12 1h0m7 1h0m-136 1h0m-8 2h0m3 0h0m129 1h0m-9 1h0m14 0h0m-54 1h0m17 1h0m7 0h0m6 0h0m27 0h0m-45 1h0m-84 1h0m58 0h0m25 0h0m20 0h0m-114 1h0m34 0h0m44 0h0m1 0h0m10 0h0m7 0h0m-85 1h0m90 0h0m2 0h0m-50 2h0m44 0h0m3 0h0m-74 1h0m36 0h0m-24 1h0m17 1h0m48 0h0m-78 1h0m7 0h0m20 0h0m19 0h0m23 2h0m10 0h0m-67 3h0m58 13h0m7 3h0m3 1h0m-5 3h0m-7 2h0m11 0h0m-9 6h0" stroke="#f4f0f0" stroke-width="1.6" stroke-linecap="square"/>
<path d="M886 55h0m-15 7h0m4 0h0m-16 1h0m7 1h0m9 2h0m-20 2h0m4 0h0m-25 3h0m7 1h0m4 0h0m-20 3h0m-1 1h0m10 0h0m11 0h0m-18 4h0m-17 3h0m15 0h0m-169 2h0m154 0h0m1 1h0m-5 2h0m-15 1h0m13 1h0m-10 1h0m-10 2h0m3 0h0m2 1h0m13 0h0m-139 1h0m2 0h0m10 0h0m-12 1h0m17 0h0m5 0h0m88 0h0m7 0h0m-105 1h0m9 0h0m65 0h0m0 1h0m-56 1h0m-3 1h0m36 0h0m2 0h0m23 0h0m-73 1h0m1 0h0m4 0h0m6 0h0m38 0h0m-33 1h0m5 0h0m31 0h0m30 0h0m-78 1h0m3 0h0m7 0h0m11 0h0m6 0h0m46 0h0m10 0h0m-56 1h0m12 0h0m-19 2h0m18 0h0m3 0h0m37 1h0m-73 1h0m20 0h0m29 0h0m25 0h0m-39 1h0m40 0h0m-3 1h0m1 1h0m5 4h0m-1 1h0m7 3h0m0 1h0m-11 2h0m6 2h0m-1 1h0m0 2h0m5 3h0m-8 7h0m2 2h0" stroke="#888480" stroke-width="1.6" stroke-linecap="square"/>
<path d="M882 59h0m-6 5h0m-17 2h0m-3 2h0m3 0h0m-22 1h0m11 0h0m10 1h0m1 0h0m-23 3h0m-1 5h0m-11 3h0m3 1h0m-17 1h0m19 0h0m5 0h0m-25 1h0m5 1h0m-156 1h0m145 0h0m3 0h0m-150 1h0m157 0h0m11 0h0m-12 1h0m-158 1h0m128 0h0m-130 1h0m15 1h0m116 0h0m4 0h0m-133 1h0m7 1h0m117 1h0m8 0h0m7 0h0m-128 1h0m99 0h0m-88 1h0m7 0h0m75 0h0m26 0h0m-104 1h0m6 0h0m85 0h0m-14 1h0m15 0h0m-48 1h0m16 0h0m10 0h0m2 0h0m36 0h0m-18 1h0m-50 1h0m10 0h0m198 0h0m-223 1h0m6 0h0m16 0h0m180 0h0m18 0h0m-206 1h0m16 0h0m185 0h0m2 0h0m-233 1h0m13 0h0m40 0h0m209 0h0m-261 1h0m26 0h0m-19 1h0m11 0h0m9 0h0m31 0h0m164 0h0m-208 1h0m216 0h0m5 0h0m26 0h0m7 0h0m-274 1h0m34 0h0m191 0h0m4 0h0m16 0h0m29 0h0m-77 1h0m1 0h0m12 0h0m36 0h0m1 0h0m14 0h0m1 0h0m6 0h0m-67 1h0m7 0h0m9 0h0m4 0h0m24 0h0m2 0h0m8 0h0m8 0h0m-53 1h0m5 0h0m8 0h0m20 0h0m42 0h0m-271 2h0m207 0h0m12 0h0m29 0h0m-70 1h0m12 0h0m1 0h0m35 0h0m5 0h0m-49 1h0m2 0h0m2 0h0m14 0h0m17 0h0m12 0h0m19 0h0m15 0h0m-69 2h0m2 0h0m6 0h0m49 0h0m10 0h0m-54 1h0m16 0h0m32 0h0m5 0h0m11 0h0m-82 1h0m11 0h0m3 0h0m3 0h0m37 0h0m11 0h0m-81 1h0m17 0h0m12 0h0m-11 1h0m13 0h0m19 0h0m33 0h0m22 0h0m-109 1h0m7 0h0m44 0h0m4 0h0m36 0h0m-93 1h0m19 0h0m19 0h0m5 0h0m6 0h0m4 0h0m37 0h0m7 0h0m17 0h0m-81 1h0m7 0h0m-21 1h0m29 0h0m80 0h0m-107 1h0m22 0h0m67 0h0m-105 1h0m3 0h0m4 0h0m28 0h0m64 0h0m-104 1h0m1 0h0m103 0h0m-100 1h0m10 1h0m115 0h0m-114 1h0m111 0h0m-118 1h0m-8 1h0m12 0h0m89 0h0m-97 2h0m111 0h0m9 1h0m6 0h0m-116 2h0m118 3h0m-8 1h0m-20 2h0m19 3h0m-3 7h0m-6 1h0m8 0h0m-5 1h0m7 2h0m-4 3h0m2 0h0m10 0h0m1 3h0m-7 1h0m-10 4h0m5 0h0m13 0h0m-5 1h0m-10 2h0m5 0h0m-8 2h0m12 5h0m1 8h0m15 0h0m-18 2h0m5 0h0m12 0h0m0 1h0m2 0h0m-1 1h0m0 1h0m-11 1h0m12 0h0m-3 1h0m-6 1h0m-14 1h0m4 0h0m14 0h0m-11 1h0m17 0h0m-17 1h0m4 0h0m9 0h0m4 0h0m-15 1h0m13 1h0m-20 1h0m11 0h0m10 0h0m-28 1h0m12 0h0m16 0h0m-21 1h0m17 0h0m6 0h0m-23 1h0m-7 1h0m25 0h0m-17 1h0m18 0h0m-8 2h0m4 0h0m-5 1h0m-17 4h0m8 1h0m2 3h0m7 9h0m1 2h0m-12 2h0m20 1h0m-6 1h0m-14 1h0m-1 4h0m15 0h0m-12 1h0m15 0h0m8 4h0m-27 1h0m6 0h0m3 0h0m8 2h0m2 0h0m6 1h0m3 0h0m-1 1h0m-23 2h0m3 0h0m8 6h0m0 1h0m-18 1h0m23 0h0m-22 2h0m29 0h0m-41 1h0m17 2h0m8 2h0m-23 1h0m35 1h0m-31 2h0m5 3h0m8 2h0m-10 3h0m7 0h0m6 0h0m-10 1h0m9 0h0m5 3h0m-15 1h0m10 0h0m-57 5h0m54 2h0m0 1h0m1 0h0m5 0h0m-14 1h0m10 0h0m2 0h0m-40 1h0m29 0h0m10 0h0m4 0h0m-6 2h0m-35 1h0m-4 1h0m1 0h0m-6 2h0m44 0h0m-45 1h0m9 0h0m2 0h0m-8 2h0" stroke="#5a4a48" stroke-width="1.6" stroke-linecap="square"/>
<path d="M876 56h0m-9 4h0m13 1h0m-10 1h0m12 1h0m-28 1h0m23 1h0m-3 1h0m-27 2h0m13 0h0m-3 1h0m17 0h0m-28 1h0m-8 2h0m13 0h0m0 1h0m-24 4h0m7 0h0m-13 1h0m5 0h0m-11 1h0m3 1h0m9 1h0m-11 1h0m-15 4h0m11 1h0m-18 2h0m17 0h0m-156 1h0m153 0h0m-130 1h0m79 0h0m26 0h0m18 0h0m-152 1h0m15 0h0m3 1h0m1 1h0m15 0h0m75 0h0m15 0h0m-112 1h0m117 0h0m2 0h0m-103 1h0m61 0h0m28 0h0m13 0h0m-12 1h0m15 0h0m-19 1h0m-75 1h0m89 0h0m-74 1h0m64 0h0m-1 1h0m-61 1h0m2 0h0m32 0h0m31 0h0m-73 1h0m7 0h0m5 0h0m1 0h0m5 0h0m10 0h0m-54 1h0m42 0h0m33 0h0m-42 1h0m67 1h0m-9 1h0m3 1h0m2 0h0m2 0h0m-55 2h0m53 1h0m5 0h0m-5 4h0m-2 1h0m6 1h0m-9 4h0m3 1h0m1 5h0m2 0h0m-5 3h0m2 6h0m1 1h0m0 2h0m2 0h0" stroke="#9890a8" stroke-width="1.6" stroke-linecap="square"/>
<path d="M872 58h0m-12 5h0m6 1h0m1 0h0m13 0h0m8 0h0m-19 1h0m-7 2h0m-22 2h0m2 2h0m10 0h0m6 0h0m-16 6h0m-21 5h0m-166 1h0m158 0h0m7 0h0m-8 4h0m-160 1h0m1 0h0m11 0h0m131 1h0m13 0h0m-19 1h0m14 0h0m1 0h0m-140 1h0m7 0h0m4 1h0m102 0h0m14 0h0m-17 1h0m-20 1h0m-83 1h0m102 0h0m15 0h0m-22 1h0m-91 1h0m95 0h0m-91 1h0m52 1h0m28 0h0m-42 1h0m-38 1h0m9 0h0m60 0h0m18 0h0m-35 1h0m39 0h0m-67 1h0m6 0h0m9 0h0m7 0h0m25 0h0m-60 1h0m17 0h0m9 0h0m45 0h0m11 0h0m-73 2h0m7 0h0m22 0h0m38 0h0m-50 1h0m53 2h0m-1 2h0m3 3h0m-3 5h0m-9 4h0m2 3h0m5 2h0m4 2h0m-9 7h0m11 3h0" stroke="#a8a8a8" stroke-width="1.6" stroke-linecap="square"/>
<path d="M728 59h0m1 0h0m-5 1h0m3 1h0m0 5h0m0 2h0m6 0h0m2 0h0m1 0h0m1 0h0m-2 2h0m-5 2h0m61 36h0m-15 4h0m2 2h0m-3 6h0m8 2h0m51 88h0m0 1h0m-2 1h0m17 0h0m2 0h0m-13 1h0m20 2h0m-18 2h0m-21 1h0m20 1h0m-8 2h0m15 0h0m14 0h0m-48 2h0m48 2h0m-50 1h0m67 3h0m2 0h0m-55 1h0m-16 2h0m59 0h0m-60 1h0m62 1h0m-12 1h0m-40 1h0m29 1h0m-24 1h0m35 2h0m22 0h0m-26 1h0m-21 2h0m59 0h0m-13 1h0m-4 1h0m20 0h0m-24 1h0m27 0h0m-45 2h0m48 1h0m-47 2h0m22 0h0m7 1h0m-27 1h0m44 0h0m-35 1h0m-7 1h0m-3 1h0m32 0h0m-23 2h0m38 0h0m-40 1h0m21 0h0m19 2h0m-3 1h0m-15 1h0m24 1h0m-14 4h0m15 1h0m-10 2h0m9 0h0m-5 1h0m9 3h0m2 0h0m1 0h0m1 2h0m-1 3h0m-1 1h0m2 0h0m1 1h0m-1 1h0m-4 2h0m3 0h0m3 1h0m-2 1h0m-1 1h0m1 1h0m3 2h0m-6 1h0m3 5h0m4 2h0m0 1h0m-4 4h0m1 0h0m4 4h0m-2 1h0m0 4h0m3 7h0m-3 4h0m2 0h0m-3 1h0m-3 1h0m3 0h0m4 3h0m-4 2h0m2 0h0m0 3h0m1 0h0" stroke="#6a5040" stroke-width="1.7" stroke-linecap="square"/>
<path d="M727 59h0m0 1h0m1 0h0m-5 2h0m5 1h0m6 1h0m3 1h0m-14 1h0m3 1h0m2 3h0m4 0h0m102 138h0m13 1h0m0 5h0m22 5h0m-9 3h0m3 2h0m-34 1h0m-14 1h0m4 0h0m42 0h0m11 0h0m2 0h0m-42 2h0m7 2h0m-15 1h0m49 0h0m10 0h0m-48 1h0m-23 1h0m53 1h0m10 0h0m3 0h0m-59 1h0m-13 1h0m15 0h0m1 1h0m18 0h0m5 0h0m9 1h0m8 0h0m-15 2h0m-29 3h0m26 1h0m1 2h0m21 1h0m14 0h0m-17 1h0m-23 2h0m48 0h0m-2 1h0m-35 2h0m9 0h0m12 0h0m11 1h0m4 0h0m-2 1h0m14 3h0m-2 4h0m6 1h0m1 0h0m-18 3h0m10 1h0m-1 3h0m7 1h0m5 7h0" stroke="#b8b0c8" stroke-width="1.7" stroke-linecap="square"/>
<path d="M731 58h0m2 3h0m0 1h0m-6 3h0m8 1h0m-5 1h0m-3 3h0m2 0h0m5 0h0m4 0h0m-2 1h0m1 0h0m49 40h0m6 0h0m-12 3h0m-2 2h0m-5 1h0m3 3h0m2 2h0m64 85h0m7 3h0m-20 6h0m12 0h0m5 0h0m-24 1h0m46 0h0m-52 2h0m4 0h0m-6 1h0m25 1h0m32 1h0m-59 1h0m8 2h0m-8 1h0m7 0h0m37 1h0m13 0h0m2 1h0m-23 1h0m33 0h0m-9 2h0m-34 2h0m29 0h0m-57 1h0m26 1h0m34 2h0m6 0h0m11 0h0m-42 3h0m22 1h0m-34 1h0m68 1h0m-10 1h0m-37 1h0m-2 1h0m17 1h0m18 0h0m-20 1h0m21 0h0m12 1h0m-51 1h0m50 0h0m-10 1h0m11 0h0m2 0h0m-44 2h0m43 2h0m-1 2h0m1 0h0m8 0h0m-7 1h0m6 1h0m-10 3h0m8 1h0m-18 1h0m-8 1h0m29 0h0m-30 1h0m27 0h0m-15 1h0m13 0h0m5 0h0m2 0h0m-2 3h0m0 2h0m2 3h0m-5 2h0m4 2h0m1 0h0m1 0h0m1 1h0m1 1h0m-1 6h0m8 0h0m-5 1h0m1 0h0m2 7h0m1 2h0m-3 2h0m1 2h0m1 0h0m-2 1h0m-1 6h0m2 0h0m2 0h0m-1 1h0m-1 4h0m2 4h0m-6 4h0m5 1h0m3 0h0m-4 3h0m-2 1h0m3 0h0m1 0h0m-1 2h0m-4 1h0m3 3h0m4 0h0m-5 3h0m-2 2h0m-9 1h0m12 1h0m-4 2h0" stroke="#8a6a50" stroke-width="1.7" stroke-linecap="square"/>
<path d="M728 60h0m1 0h0m-1 2h0m-7 2h0m1 1h0m7 0h0m4 0h0m5 0h0m-5 3h0m4 1h0m-3 3h0" stroke="#d8d4d0" stroke-width="1.7" stroke-linecap="square"/>
<path d="M735 64h0m-4 3h0m0 1h0m4 3h0m-3 1h0m112 136h0m-17 3h0m12 0h0m1 4h0m3 1h0m8 0h0m-18 3h0m-19 3h0m62 1h0m-51 1h0m11 0h0m19 0h0m15 0h0m-21 3h0m2 0h0m-1 1h0m14 0h0m14 1h0m-70 1h0m72 2h0m-62 1h0m18 0h0m28 1h0m-35 1h0m-6 1h0m2 0h0m-6 1h0m30 1h0m32 0h0m-56 1h0m11 0h0m25 0h0m10 1h0m-3 1h0m-17 1h0m23 0h0m15 2h0m-48 2h0m8 1h0m16 0h0m-29 1h0m20 0h0m2 1h0m13 0h0m14 0h0m-46 1h0m2 0h0m40 4h0m-23 1h0m33 0h0m6 2h0m-26 1h0m25 5h0m4 0h0m-1 1h0m-8 3h0m3 4h0m9 1h0" stroke="#9890a8" stroke-width="1.7" stroke-linecap="square"/>
<path d="M724 59h0m0 2h0m2 1h0m-1 1h0m4 0h0m8 0h0m-3 4h0m0 4h0m103 136h0m9 5h0m11 0h0m-3 4h0m4 0h0m-22 2h0m-15 1h0m7 0h0m9 1h0m28 0h0m-29 1h0m3 1h0m34 1h0m-12 1h0m-42 1h0m-10 1h0m46 0h0m-4 1h0m2 0h0m-26 2h0m6 0h0m-23 1h0m34 1h0m5 0h0m-28 1h0m17 0h0m-10 3h0m39 2h0m-41 1h0m19 0h0m38 0h0m5 1h0m-71 2h0m6 1h0m41 0h0m-47 1h0m10 0h0m17 0h0m24 2h0m23 0h0m-27 4h0m3 0h0m14 0h0m5 0h0m-28 7h0m31 0h0m-11 2h0m20 0h0m-20 3h0m11 1h0m2 0h0m-13 2h0m11 0h0m4 0h0m-20 1h0m19 0h0m4 1h0m-6 3h0" stroke="#f4f0f0" stroke-width="1.7" stroke-linecap="square"/>
<path d="M731 59h0m-1 5h0m6 0h0m-14 3h0m2 0h0m7 1h0m-4 1h0m8 0h0m57 39h0m-5 1h0m0 1h0m4 1h0m-16 1h0m17 3h0m-11 2h0m10 1h0m-17 3h0m19 0h0m55 89h0m-22 2h0m9 1h0m16 0h0m-19 6h0m-7 2h0m5 1h0m41 1h0m-40 2h0m11 0h0m30 1h0m-58 1h0m10 0h0m47 0h0m-11 1h0m8 0h0m-60 1h0m43 0h0m-40 1h0m52 0h0m-21 1h0m-13 2h0m5 0h0m29 1h0m-53 1h0m22 1h0m15 1h0m8 1h0m15 0h0m-48 1h0m37 1h0m4 0h0m2 0h0m12 0h0m-36 3h0m15 0h0m5 0h0m33 2h0m-55 1h0m-10 1h0m63 0h0m-50 1h0m36 1h0m2 1h0m14 0h0m4 0h0m2 0h0m-41 2h0m36 0h0m5 1h0m-48 1h0m34 0h0m1 1h0m-29 1h0m37 0h0m-22 1h0m15 2h0m9 0h0m5 0h0m3 0h0m-38 1h0m19 0h0m4 1h0m-3 1h0m11 3h0m10 1h0m1 0h0m1 4h0m-17 1h0m15 0h0m2 1h0m-1 2h0m3 0h0m2 0h0m-9 3h0m9 1h0m-4 1h0m1 0h0m2 1h0m2 5h0m-2 1h0m8 3h0m-3 1h0m-2 6h0m5 3h0m-4 1h0m-5 1h0m8 0h0m-4 2h0m0 4h0m1 0h0m2 3h0m0 3h0m3 1h0m-1 1h0m1 1h0m4 2h0m-10 2h0m0 2h0m0 4h0m7 6h0m-4 1h0m-5 1h0m-1 3h0m2 0h0m-5 1h0m1 0h0m-4 2h0m6 0h0" stroke="#c8b090" stroke-width="1.7" stroke-linecap="square"/>
<path d="M733 59h0m-1 2h0m-1 1h0m-8 1h0m1 5h0m5 2h0m6 1h0m37 39h0m12 2h0m-8 2h0m14 1h0m3 0h0m-16 3h0m9 2h0m-11 3h0m-5 1h0m3 0h0m66 83h0m3 0h0m8 3h0m-11 3h0m9 0h0m-27 2h0m31 3h0m4 0h0m-32 3h0m11 0h0m34 1h0m-51 1h0m46 1h0m-14 1h0m-30 2h0m40 0h0m-5 3h0m-32 2h0m20 0h0m34 0h0m-67 1h0m74 0h0m-31 1h0m24 2h0m-56 2h0m27 0h0m-2 1h0m-30 1h0m7 0h0m65 4h0m-28 1h0m39 0h0m-37 1h0m31 0h0m4 1h0m1 1h0m-19 1h0m13 0h0m4 0h0m-41 1h0m1 2h0m32 1h0m12 3h0m-17 1h0m20 0h0m-46 1h0m15 0h0m31 0h0m1 0h0m-10 1h0m10 1h0m-7 1h0m10 0h0m-1 3h0m-15 1h0m20 5h0m1 1h0m-2 2h0m0 2h0m1 0h0m-4 1h0m-1 1h0m5 4h0m4 0h0m1 1h0m-2 1h0m0 1h0m4 0h0m-4 2h0m1 1h0m0 2h0m1 1h0m0 6h0m2 4h0m5 0h0m-5 1h0m1 0h0m-1 3h0m1 0h0m-1 4h0m-1 1h0m4 0h0m-2 1h0m2 0h0m-5 1h0m1 4h0m-2 3h0m6 0h0m-6 5h0m6 0h0m-4 1h0m3 3h0m-3 4h0m0 3h0m1 0h0m-1 3h0m-4 1h0m1 3h0" stroke="#b89878" stroke-width="1.7" stroke-linecap="square"/>
<path d="M731 61h0m3 3h0m-10 4h0m3 3h0" stroke="#c8c4c0" stroke-width="1.7" stroke-linecap="square"/>
<path d="M731 58h0m-3 3h0m-6 4h0m3 0h0m3 2h0m1 0h0m10 3h0m-8 1h0m7 0h0m33 39h0m20 1h0m-20 1h0m21 1h0m2 0h0m-17 3h0m15 0h0m-17 1h0m9 0h0m-14 2h0m5 0h0m12 0h0m-11 1h0m1 0h0m13 0h0m2 1h0m36 88h0m13 0h0m-20 5h0m31 1h0m-22 2h0m24 2h0m3 1h0m-33 1h0m11 0h0m38 1h0m-48 3h0m-11 1h0m11 1h0m-1 3h0m4 0h0m-22 1h0m37 0h0m-38 1h0m5 0h0m4 0h0m37 0h0m-16 1h0m34 1h0m16 3h0m3 0h0m-75 2h0m32 0h0m2 0h0m-35 2h0m50 1h0m34 0h0m-60 2h0m26 0h0m-22 1h0m5 0h0m17 0h0m8 0h0m-9 1h0m37 0h0m-42 2h0m41 0h0m-49 3h0m4 0h0m16 1h0m-5 2h0m28 0h0m-4 1h0m21 0h0m-43 1h0m6 0h0m28 0h0m5 0h0m-19 4h0m-20 1h0m24 0h0m-18 1h0m30 0h0m8 0h0m-7 1h0m7 0h0m3 2h0m-26 1h0m23 1h0m-8 2h0m10 0h0m-18 1h0m19 0h0m-2 1h0m3 3h0m-2 1h0m-3 4h0m5 2h0m1 0h0m0 1h0m1 3h0m2 0h0m-1 1h0m0 1h0m0 1h0m-2 6h0m11 4h0m-7 6h0m2 1h0m0 4h0m3 1h0m-4 1h0m-1 2h0m-2 2h0m0 2h0m4 0h0m2 2h0m-10 1h0m4 1h0m3 1h0m0 5h0m-3 4h0m2 1h0m-3 1h0m3 1h0m-3 2h0m2 0h0m1 0h0" stroke="#a08060" stroke-width="1.7" stroke-linecap="square"/>
<path d="M732 60h0m-9 1h0m12 0h0m-12 1h0m3 0h0m6 3h0m-5 2h0m5 0h0m3 3h0m116 141h0m-5 1h0m-17 2h0m2 1h0m25 3h0m-30 3h0m-3 2h0m31 1h0m-19 3h0m44 1h0m-28 1h0m-9 1h0m13 2h0m-41 1h0m50 0h0m9 1h0m-16 3h0m-41 3h0m39 0h0m-37 1h0m55 0h0m3 0h0m-28 2h0m27 0h0m-49 1h0m33 0h0m33 1h0m-35 2h0m-11 2h0m11 0h0m22 0h0m-28 2h0m8 0h0m7 1h0m19 0h0m-39 2h0m10 3h0m19 0h0m9 0h0m11 0h0m-33 1h0m33 0h0m5 3h0m-22 4h0m25 7h0" stroke="#ffffff" stroke-width="1.7" stroke-linecap="square"/>
<path d="M730 58h0m0 8h0m8 0h0m-6 1h0m-9 1h0m8 0h0m6 0h0m-7 2h0m2 0h0m2 1h0m-1 1h0m113 136h0m5 0h0m-3 2h0m5 0h0m-27 3h0m27 2h0m9 0h0m-47 5h0m16 0h0m6 0h0m20 1h0m8 0h0m7 1h0m2 0h0m-36 1h0m36 0h0m-58 1h0m6 0h0m1 1h0m1 0h0m28 2h0m13 0h0m-54 4h0m18 0h0m39 0h0m16 0h0m-79 3h0m29 0h0m50 1h0m-18 1h0m16 0h0m5 0h0m-66 1h0m1 0h0m15 1h0m43 0h0m-57 1h0m13 0h0m43 2h0m-26 1h0m9 1h0m21 1h0m1 0h0m3 1h0m-34 5h0m10 0h0m10 1h0m14 0h0m-35 2h0m32 0h0m2 0h0m-15 2h0m5 3h0m15 0h0m5 1h0m1 5h0m-16 1h0m16 3h0m-7 1h0m1 1h0m18 5h0" stroke="#e8e4ec" stroke-width="1.7" stroke-linecap="square"/>
<path d="M726 58h0m2 0h0m5 1h0m-10 2h0m7 2h0m-3 1h0m-5 1h0m4 0h0m9 0h0m-13 1h0m14 0h0m1 2h0m-12 2h0m13 1h0" stroke="#a8a8a8" stroke-width="1.7" stroke-linecap="square"/>
<path d="M727 58h0m5 1h0m-4 5h0m-3 1h0m9 1h0m-10 2h0m2 0h0m12 1h0m-2 1h0m-9 1h0" stroke="#686460" stroke-width="1.7" stroke-linecap="square"/>
<path d="M728 58h0m4 1h0m-5 6h0m10 0h0m-5 2h0m-8 1h0m8 2h0m1 2h0m97 138h0m6 0h0m3 0h0m3 0h0m12 1h0m-3 1h0m-23 1h0m-5 3h0m31 0h0m-23 2h0m30 0h0m-24 1h0m17 2h0m4 1h0m1 0h0m-16 1h0m-8 1h0m28 0h0m7 2h0m7 0h0m-39 1h0m-29 3h0m60 0h0m-18 1h0m25 1h0m-51 2h0m46 1h0m-65 1h0m34 1h0m-16 1h0m24 1h0m-38 2h0m36 0h0m-24 1h0m20 2h0m44 1h0m-7 1h0m12 0h0m2 1h0m-37 1h0m0 1h0m38 0h0m-38 2h0m-4 1h0m20 2h0m11 0h0m-19 1h0m21 3h0m-11 1h0m-5 2h0m29 6h0" stroke="#d0c8d8" stroke-width="1.7" stroke-linecap="square"/>
<path d="M722 61h0m0 1h0m4 0h0m0 2h0m0 1h0m2 0h0m8 3h0m-1 2h0m3 1h0" stroke="#888480" stroke-width="1.7" stroke-linecap="square"/>
<path d="M763 57h0m-7 2h0m12 0h0m12 1h0m-26 1h0m15 2h0m-18 2h0m15 1h0m1 0h0" stroke="#c8b090" stroke-width="1.2" stroke-linecap="square"/>
<path d="M742 57h0m21 0h0m-19 4h0" stroke="#ffffff" stroke-width="1.2" stroke-linecap="square"/>
<path d="M747 61h0m31 1h0m-21 1h0m-2 2h0m-7 1h0m31 3h0" stroke="#f4f0f0" stroke-width="1.2" stroke-linecap="square"/>
<path d="M765 56h0m-18 1h0m32 3h0m-15 1h0m9 0h0m-2 3h0m-4 3h0m1 1h0" stroke="#9890a8" stroke-width="1.2" stroke-linecap="square"/>
<path d="M755 58h0m5 0h0m13 2h0m-24 2h0m28 3h0m-24 4h0" stroke="#d0c8d8" stroke-width="1.2" stroke-linecap="square"/>
<path d="M766 60h0m-19 5h0m31 2h0" stroke="#b8b0c8" stroke-width="1.2" stroke-linecap="square"/>
<path d="M769 58h0m-24 1h0m24 3h0m-2 5h0m11 0h0m-27 2h0" stroke="#6a5040" stroke-width="1.2" stroke-linecap="square"/>
<path d="M743 57h0m35 0h0m-27 3h0m-6 5h0" stroke="#d8c0a0" stroke-width="1.2" stroke-linecap="square"/>
<path d="M778 57h0m-29 1h0m18 6h0m12 0h0m-28 2h0" stroke="#8a6a50" stroke-width="1.2" stroke-linecap="square"/>
<path d="M752 59h0m-8 1h0m13 4h0" stroke="#e8e4ec" stroke-width="1.2" stroke-linecap="square"/>
<path d="M746 57h0m9 1h0m18 6h0m3 5h0" stroke="#a08060" stroke-width="1.2" stroke-linecap="square"/>
<path d="M766 59h0m-17 6h0m-1 2h0" stroke="#b89878" stroke-width="1.2" stroke-linecap="square"/>
<path d="M816 72h0m2 1h0m-14 1h0m8 0h0m-9 1h0m4 1h0m22 0h0m381 399h0m-15 6h0m-4 12h0m18 10h0m5 2h0m-12 14h0m14 7h0m-37 2h0m36 9h0" stroke="#4a4048" stroke-width="1.3" stroke-linecap="square"/>
<path d="M880 59h0m-35 1h0m20 1h0m-5 3h0m5 3h0m12 0h0m-19 1h0m-9 1h0m15 0h0m-66 1h0m34 1h0m-10 1h0m30 1h0m-24 1h0m-170 31h0m10 1h0m-2 1h0m3 1h0m4 1h0m-8 2h0m10 0h0m-24 1h0m11 3h0m25 1h0m-19 1h0m5 0h0m261 36h0m2 3h0m1 2h0m2 0h0m1 5h0m-106 1h0m109 1h0m2 2h0m-104 3h0m104 0h0m1 1h0m-101 1h0m2 1h0m101 0h0m1 1h0m0 2h0m-97 1h0m103 4h0m-99 1h0m4 2h0m95 0h0m-98 1h0m8 5h0m95 0h0m2 2h0m-93 2h0m93 0h0m1 0h0m2 1h0m-96 1h0m2 1h0m4 2h0m0 2h0m1 1h0m2 0h0m2 4h0m4 5h0m1 3h0m3 2h0m0 2h0m6 6h0m1 3h0m1 1h0m1 3h0m3 4h0m1 2h0m4 6h0m0 1h0m1 2h0m0 1h0m5 5h0m0 3h0m3 4h0m1 1h0m2 2h0m1 5h0m1 1h0m1 1h0m-280 2h0m4 2h0m278 0h0m-273 1h0m1 0h0m272 0h0m-272 1h0m7 4h0m4 0h0m265 5h0m6 9h0m-269 26h0m4 3h0m1 1h0m1 0h0m6 1h0m-2 1h0m1 0h0m7 2h0m1 0h0m3 0h0m-1 1h0m-1 1h0m4 0h0m3 0h0m-33 21h0m-1 1h0m4 0h0m3 1h0m6 2h0m331 37h0m5 16h0m6 10h0m-2 1h0m-1 7h0m-90 15h0m82 11h0m-5 2h0m11 1h0m4 4h0m-58 2h0m25 1h0m38 4h0" stroke="#8a6a50" stroke-width="1.3" stroke-linecap="square"/>
<path d="M876 59h0m0 1h0m-12 3h0m5 1h0m6 0h0m-15 1h0m29 1h0m-32 1h0m-1 1h0m10 0h0m-10 1h0m-52 3h0m43 0h0m-49 2h0m8 0h0m9 2h0m-23 1h0m19 0h0m-157 26h0m18 4h0m-14 2h0m17 0h0m-4 1h0m-10 1h0m2 1h0m2 2h0m3 0h0m-2 1h0m7 0h0m-10 2h0m23 0h0m-7 1h0m1 0h0m139 34h0m116 1h0m-117 1h0m4 2h0m1 0h0m115 2h0m1 2h0m1 1h0m-103 4h0m0 1h0m106 0h0m-106 1h0m109 3h0m-102 3h0m3 1h0m101 0h0m-101 1h0m1 0h0m103 1h0m-98 2h0m103 4h0m-2 1h0m4 2h0m-98 1h0m97 0h0m-86 11h0m2 1h0m0 1h0m0 1h0m2 1h0m2 0h0m1 2h0m2 1h0m4 8h0m7 8h0m2 3h0m3 6h0m2 3h0m6 9h0m4 8h0m6 8h0m1 1h0m3 6h0m-274 9h0m4 0h0m273 1h0m-271 1h0m272 1h0m-268 1h0m3 1h0m268 0h0m-268 1h0m269 3h0m1 3h0m1 1h0m3 1h0m-2 2h0m-264 33h0m1 0h0m3 1h0m5 2h0m2 0h0m10 2h0m1 2h0m4 0h0m-36 21h0m7 1h0m-2 1h0m4 0h0m-1 1h0m7 1h0m4 1h0m1 0h0m327 43h0m-83 4h0m89 10h0m-93 6h0m94 0h0m-94 3h0m90 14h0m-83 9h0m1 0h0m9 9h0m73 5h0m3 1h0m-31 1h0m1 1h0m36 3h0" stroke="#6a5040" stroke-width="1.3" stroke-linecap="square"/>
<path d="M871 60h0m-25 1h0m11 1h0m17 0h0m-18 1h0m-3 3h0m-41 1h0m60 0h0m-33 2h0m18 0h0m-61 2h0m33 1h0m-18 1h0m15 0h0m1 1h0m13 2h0m-33 1h0m32 0h0m3 0h0m-27 3h0m-156 21h0m-5 4h0m2 0h0m-1 1h0m8 0h0m-12 4h0m17 0h0m-6 1h0m1 1h0m-6 3h0m27 1h0m135 36h0m115 3h0m2 1h0m-110 2h0m1 1h0m110 0h0m-106 3h0m110 0h0m-107 3h0m2 0h0m105 0h0m-104 1h0m106 0h0m0 1h0m-102 2h0m105 2h0m-102 1h0m4 2h0m3 0h0m2 4h0m99 1h0m1 0h0m-100 1h0m99 0h0m1 0h0m-99 1h0m102 2h0m0 1h0m-94 2h0m95 1h0m-92 1h0m2 2h0m-2 2h0m96 1h0m-87 7h0m1 0h0m-1 1h0m4 3h0m4 5h0m6 9h0m6 6h0m0 3h0m10 12h0m1 4h0m5 7h0m-1 1h0m5 6h0m0 2h0m2 3h0m3 4h0m0 1h0m-279 4h0m4 0h0m-1 1h0m7 2h0m1 1h0m0 1h0m273 1h0m-269 1h0m269 1h0m-266 1h0m2 0h0m271 9h0m1 4h0m-1 1h0m0 1h0m-269 25h0m-3 1h0m3 0h0m1 0h0m6 1h0m-1 1h0m2 0h0m4 1h0m3 1h0m0 1h0m5 2h0m3 0h0m3 1h0m-29 21h0m-3 1h0m3 0h0m4 0h0m3 3h0m5 0h0m3 1h0m2 1h0m248 36h0m83 14h0m-90 25h0m89 0h0m-1 2h0m0 4h0m-2 1h0m-6 13h0m-1 1h0m-6 2h0m14 2h0m0 1h0m6 4h0" stroke="#c8b090" stroke-width="1.3" stroke-linecap="square"/>
<path d="M800 70h0m15 2h0m6 1h0m-15 4h0m10 0h0m382 397h0m6 12h0m1 0h0m-28 6h0m14 0h0m24 8h0m-3 3h0m-39 3h0m4 8h0m25 5h0m-17 1h0m5 4h0m19 11h0" stroke="#6a5a58" stroke-width="1.3" stroke-linecap="square"/>
<path d="M817 68h0m-17 3h0m11 0h0m17 0h0m384 425h0m2 2h0m3 2h0m-17 5h0m12 7h0m-35 17h0m25 8h0m-478 83h0m4 5h0m-6 1h0m17 0h0m-5 1h0m2 1h0m-5 1h0m7 2h0m-28 1h0m-4 2h0m15 0h0m1 1h0m11 1h0m-26 6h0m19 1h0m15 0h0m-10 2h0m10 1h0m-15 1h0m-2 3h0m-11 1h0m4 1h0m10 0h0m15 3h0m-29 2h0m17 0h0m-10 3h0m12 0h0m9 0h0m-29 2h0m8 3h0m16 2h0m2 0h0m-10 2h0m-8 4h0m20 3h0m0 1h0m4 0h0m-14 1h0m6 0h0m-1 2h0m-7 3h0m8 3h0m3 0h0m3 1h0m-7 8h0" stroke="#5a4a48" stroke-width="1.3" stroke-linecap="square"/>
<path d="M799 73h0m19 5h0m2 0h0m-1 2h0m379 393h0m9 4h0m-31 10h0m0 16h0m18 10h0m20 1h0m-26 1h0m-12 6h0m-2 4h0" stroke="#3a3038" stroke-width="1.3" stroke-linecap="square"/>
<path d="M874 59h0m-17 6h0m14 0h0m-18 2h0m-13 1h0m-14 2h0m3 4h0m24 0h0m-39 1h0m3 0h0m30 0h0m-45 2h0m-148 26h0m9 2h0m-10 1h0m5 1h0m9 4h0m-5 1h0m13 0h0m8 0h0m-19 1h0m21 1h0m3 1h0m-5 1h0m-10 2h0m5 3h0m259 36h0m3 6h0m-106 2h0m6 4h0m106 0h0m-104 1h0m106 0h0m3 8h0m3 1h0m0 1h0m-99 1h0m0 1h0m4 2h0m3 1h0m-2 1h0m4 1h0m7 8h0m93 0h0m-92 4h0m11 12h0m1 1h0m2 0h0m0 6h0m5 1h0m2 4h0m2 5h0m1 0h0m1 3h0m2 4h0m3 5h0m1 3h0m4 2h0m0 1h0m3 5h0m0 1h0m2 4h0m6 10h0m2 3h0m-279 2h0m2 0h0m-1 1h0m4 1h0m3 2h0m3 1h0m3 1h0m1 1h0m1 0h0m268 2h0m-265 1h0m268 3h0m0 1h0m1 2h0m1 2h0m1 1h0m-1 1h0m1 0h0m2 3h0m-273 27h0m4 0h0m1 1h0m2 0h0m2 1h0m3 2h0m1 0h0m4 0h0m-3 1h0m7 1h0m3 2h0m2 0h0m0 1h0m-28 21h0m4 0h0m-2 1h0m1 0h0m4 0h0m3 2h0m4 1h0m332 48h0m-88 4h0m92 17h0m1 0h0m-92 7h0m1 1h0m1 2h0m-1 4h0m1 3h0m3 0h0m79 7h0m5 8h0m-53 4h0m56 0h0m5 2h0m0 5h0m2 2h0" stroke="#d8c0a0" stroke-width="1.3" stroke-linecap="square"/>
<path d="M811 77h0m368 396h0m-5 8h0m12 0h0m25 0h0m-8 5h0m12 0h0m-29 6h0m0 4h0m15 5h0m7 9h0m-16 11h0m-5 13h0" stroke="#201820" stroke-width="1.3" stroke-linecap="square"/>
<path d="M664 62h0m-8 4h0m151 62h0m-89 44h0m3 5h0m10 1h0m42 335h0m-13 1h0m8 2h0m2 0h0m-4 1h0m-1 2h0m-3 1h0m-3 3h0m11 0h0m-12 4h0m15 2h0" stroke="#ffffff" stroke-width="1.5" stroke-linecap="square"/>
<path d="M663 63h0m-2 2h0m146 60h0m-1 2h0m-1 3h0m-82 44h0m2 0h0m-1 2h0m1 2h0m3 0h0m-2 3h0m41 326h0m-5 1h0m2 3h0m-3 14h0" stroke="#9890a8" stroke-width="1.5" stroke-linecap="square"/>
<path d="M658 63h0m2 0h0m3 1h0m150 62h0m-8 2h0m4 2h0m3 1h0m-92 41h0m6 2h0m-5 2h0m3 0h0m-5 3h0m1 0h0m38 327h0m6 4h0m2 11h0m-6 3h0" stroke="#b8b0c8" stroke-width="1.5" stroke-linecap="square"/>
<path d="M670 110h0m-11 1h0m4 0h0m-2 1h0m0 3h0m15 0h0m-12 3h0m6 0h0m15 1h0m4 1h0m-4 3h0" stroke="#96a448" stroke-width="1.3" stroke-linecap="square"/>
<path d="M670 110h0m-7 1h0m1 2h0m12 0h0m8 0h0m-17 1h0m-1 1h0m5 0h0m5 0h0m3 0h0m6 1h0m-4 1h0m7 2h0m2 1h0m-5 1h0m-2 3h0" stroke="#4a5a28" stroke-width="1.3" stroke-linecap="square"/>
<path d="M659 105h0m-8 4h0m12 0h0m0 3h0m12 0h0m-6 1h0m19 0h0m0 1h0m-9 1h0m3 0h0m-9 1h0m7 0h0m-9 1h0" stroke="#a8b060" stroke-width="1.3" stroke-linecap="square"/>
<path d="M660 105h0m-4 2h0m16 2h0m-9 1h0m8 2h0m-12 2h0m8 0h0m-2 1h0m4 0h0m12 5h0m3 0h0m7 0h0" stroke="#7a8a38" stroke-width="1.3" stroke-linecap="square"/>
<path d="M663 102h0m-1 5h0m2 1h0m3 0h0m-17 1h0m12 0h0m3 0h0m11 5h0m2 2h0m1 0h0m13 0h0m-19 1h0m13 2h0m-2 1h0m10 5h0" stroke="#5a6a28" stroke-width="1.3" stroke-linecap="square"/>
<path d="M664 103h0m-9 1h0m1 1h0m11 2h0m-10 1h0m3 2h0m-3 1h0m23 0h0m-30 1h0m8 1h0m13 0h0m18 0h0m-8 2h0m-17 2h0m6 0h0m4 0h0m7 0h0m-2 1h0m0 1h0m5 3h0" stroke="#a0a040" stroke-width="1.3" stroke-linecap="square"/>
<path d="M652 101h0m3 3h0m4 6h0m5 0h0m14 1h0m-18 2h0m26 1h0m-11 3h0m-19 1h0m12 1h0m19 0h0m-14 2h0" stroke="#6a7a30" stroke-width="1.3" stroke-linecap="square"/>
<path d="M760 111h0m-16 1h0m24 0h0m-27 1h0m5 0h0m-8 1h0m21 0h0m1 0h0m-23 1h0m11 0h0m4 0h0m9 1h0m7 0h0m-6 1h0m6 0h0m-39 1h0m4 0h0m7 0h0m3 0h0m7 0h0m12 0h0m1 0h0m-34 1h0m17 1h0m8 0h0m7 0h0m4 0h0m-28 1h0m13 0h0m7 0h0m5 0h0m1 0h0m7 0h0m-8 1h0m1 0h0m-16 1h0m20 0h0m3 0h0m-11 1h0m-12 1h0m-3 1h0m15 0h0m9 0h0m-27 1h0m17 0h0m-2 1h0m2 0h0m6 2h0m-15 1h0m14 0h0m1 1h0m-12 1h0m1 0h0m1 0h0m8 0h0m-92 2h0m12 0h0m77 0h0m4 0h0m-8 1h0m7 0h0m-56 1h0m-38 1h0m1 0h0m43 0h0m3 0h0m-39 1h0m14 1h0m38 0h0m32 0h0m-53 1h0m30 0h0m-47 1h0m29 0h0m33 1h0m1 0h0m-83 1h0m71 0h0m-20 1h0m7 0h0m20 0h0m-72 1h0m45 0h0m11 0h0m13 0h0m-59 1h0m26 0h0m33 0h0m-64 3h0m20 1h0m11 0h0m11 0h0m27 0h0m-51 1h0m1 0h0m40 0h0m-68 81h0m-12 4h0m10 0h0m7 0h0m1 0h0m-3 1h0m5 0h0m2 0h0m-12 2h0m2 1h0m-8 5h0m20 0h0m-13 1h0m12 0h0m-7 1h0m-10 1h0m7 0h0m12 0h0m-12 5h0m1 0h0m8 0h0m1 1h0m-2 2h0m3 2h0" stroke="#888480" stroke-width="1.8" stroke-linecap="square"/>
<path d="M762 111h0m-11 1h0m8 0h0m-23 1h0m15 0h0m6 0h0m10 0h0m-30 1h0m7 0h0m-9 1h0m5 0h0m20 0h0m-30 1h0m10 0h0m21 0h0m-14 1h0m1 0h0m10 0h0m4 0h0m-13 1h0m-14 1h0m2 0h0m11 0h0m14 1h0m-30 1h0m1 0h0m11 0h0m22 0h0m-24 1h0m8 0h0m8 0h0m11 0h0m-27 2h0m6 0h0m2 0h0m16 0h0m-17 2h0m1 0h0m11 0h0m8 0h0m-25 1h0m15 0h0m-11 1h0m13 0h0m4 1h0m-14 1h0m17 0h0m-20 1h0m2 0h0m1 1h0m10 0h0m2 2h0m-78 3h0m12 0h0m65 0h0m5 0h0m-80 1h0m77 0h0m-91 1h0m45 0h0m-42 2h0m28 0h0m2 0h0m-15 1h0m31 0h0m5 0h0m-59 1h0m74 0h0m-69 1h0m3 0h0m23 0h0m12 0h0m17 0h0m3 0h0m6 0h0m6 0h0m-44 1h0m5 0h0m12 0h0m14 0h0m-37 1h0m12 0h0m3 0h0m9 0h0m1 0h0m1 0h0m-15 1h0m5 0h0m7 0h0m4 0h0m-14 1h0m28 0h0m-55 1h0m12 0h0m40 0h0m12 0h0m-59 1h0m12 0h0m4 0h0m7 0h0m5 0h0m14 0h0m-8 1h0m7 0h0m-42 1h0m3 0h0m32 0h0m7 0h0m12 0h0m18 0h0m-86 77h0m1 0h0m-3 2h0m11 3h0m-19 1h0m13 0h0m-9 4h0m-1 4h0m11 0h0m-3 2h0m10 0h0m10 4h0m-23 1h0m18 0h0m9 0h0m-15 1h0m2 0h0m10 0h0m-12 2h0m8 0h0m-7 1h0m-5 2h0m12 0h0m-12 1h0m7 2h0m0 3h0m3 1h0" stroke="#d8d4d0" stroke-width="1.8" stroke-linecap="square"/>
<path d="M770 111h0m-16 1h0m11 0h0m-28 2h0m9 0h0m11 0h0m1 0h0m-33 1h0m5 0h0m5 1h0m-3 1h0m34 0h0m2 0h0m-24 1h0m5 0h0m13 0h0m-27 1h0m11 0h0m12 0h0m-26 1h0m26 0h0m3 0h0m5 0h0m-30 1h0m5 0h0m18 0h0m-6 2h0m13 0h0m-30 1h0m2 0h0m2 0h0m11 0h0m18 0h0m-27 2h0m7 1h0m4 0h0m11 0h0m-14 1h0m1 0h0m15 1h0m-22 1h0m3 1h0m9 0h0m12 0h0m-14 1h0m3 0h0m-5 1h0m4 0h0m8 1h0m-9 1h0m13 0h0m-14 1h0m2 0h0m-2 1h0m13 0h0" stroke="#b8b4b0" stroke-width="1.8" stroke-linecap="square"/>
<path d="M763 111h0m5 0h0m-38 3h0m8 0h0m19 0h0m8 0h0m-32 1h0m13 0h0m-16 1h0m9 0h0m22 0h0m7 0h0m-37 1h0m3 0h0m7 0h0m15 0h0m8 0h0m-35 1h0m1 0h0m21 0h0m1 0h0m13 0h0m-33 1h0m15 0h0m19 0h0m-32 1h0m4 0h0m4 0h0m2 0h0m-12 1h0m9 0h0m4 0h0m17 0h0m7 0h0m-11 1h0m8 0h0m-31 1h0m10 1h0m25 0h0m-32 1h0m18 0h0m11 0h0m-26 1h0m7 0h0m2 0h0m2 0h0m3 0h0m2 0h0m4 0h0m-14 2h0m1 0h0m1 0h0m8 0h0m-14 1h0m10 0h0m-2 1h0m-1 1h0m17 0h0m-22 1h0m4 0h0m12 0h0m-6 1h0m9 1h0m2 0h0m0 1h0m-9 1h0m-5 1h0m3 0h0m10 0h0" stroke="#d0ccc8" stroke-width="1.8" stroke-linecap="square"/>
<path d="M758 112h0m7 0h0m5 0h0m-17 1h0m-24 1h0m7 0h0m24 0h0m1 0h0m1 0h0m-32 1h0m10 0h0m26 0h0m-28 1h0m1 0h0m23 0h0m-21 2h0m22 0h0m1 0h0m-17 1h0m20 0h0m-8 1h0m-24 1h0m5 0h0m5 0h0m21 0h0m-28 1h0m14 1h0m3 0h0m1 0h0m10 0h0m-31 1h0m7 0h0m1 0h0m4 0h0m11 0h0m7 0h0m-10 1h0m-9 1h0m11 0h0m1 0h0m2 0h0m4 1h0m-18 1h0m15 0h0m-11 1h0m7 0h0m13 0h0m-19 1h0m5 0h0m5 0h0m1 0h0m-5 1h0m-12 1h0m3 0h0m12 0h0m9 0h0m-22 1h0m-82 2h0m10 0h0m83 0h0m9 0h0m-82 1h0m-17 1h0m2 1h0m23 0h0m1 0h0m-22 1h0m35 0h0m6 0h0m-39 1h0m36 0h0m1 0h0m16 0h0m-59 1h0m73 0h0m-30 1h0m-40 1h0m34 0h0m19 0h0m3 0h0m8 0h0m-47 1h0m14 0h0m17 0h0m5 0h0m18 0h0m5 0h0m5 0h0m-62 1h0m8 0h0m6 0h0m8 0h0m5 0h0m25 0h0m-11 1h0m12 1h0m-32 1h0m-26 1h0m21 0h0m0 1h0m32 0h0m7 0h0m-56 1h0m61 0h0m-40 1h0m4 0h0m37 0h0m4 0h0m-87 78h0m1 8h0m5 3h0m-7 3h0m17 0h0m-13 2h0m21 0h0m-5 1h0m8 2h0m-26 2h0m1 0h0m14 1h0m-10 1h0m-2 1h0m5 0h0m3 3h0m13 0h0m-13 1h0m2 0h0m6 2h0m-1 4h0" stroke="#c8c4c0" stroke-width="1.8" stroke-linecap="square"/>
<path d="M743 112h0m18 0h0m-24 1h0m16 0h0m-26 1h0m3 0h0m5 0h0m-3 1h0m4 0h0m14 0h0m-23 1h0m6 0h0m19 0h0m4 0h0m4 0h0m7 0h0m2 0h0m-14 1h0m1 0h0m12 0h0m-38 1h0m11 0h0m10 0h0m11 1h0m6 0h0m-23 1h0m6 0h0m12 0h0m-22 1h0m8 1h0m14 0h0m-16 1h0m3 0h0m18 0h0m-24 1h0m3 0h0m8 0h0m10 0h0m0 1h0m1 0h0m-21 2h0m8 0h0m12 0h0m-26 1h0m19 0h0m-12 1h0m1 0h0m2 0h0m1 0h0m0 1h0m1 1h0m10 0h0m-12 1h0m5 0h0m-6 1h0m19 0h0m-99 1h0m94 0h0m-91 1h0m83 0h0m3 0h0m-86 1h0m12 0h0m1 1h0m16 0h0m52 0h0m15 0h0m-84 1h0m73 0h0m-35 1h0m1 0h0m4 0h0m-53 1h0m38 1h0m15 0h0m3 0h0m18 0h0m10 0h0m-49 1h0m4 0h0m8 0h0m-42 1h0m17 0h0m-18 1h0m25 0h0m26 0h0m22 0h0m-52 1h0m31 0h0m16 0h0m-5 1h0m6 0h0m-64 1h0m28 0h0m33 0h0m-68 1h0m28 0h0m47 0h0m-56 1h0m2 0h0m41 0h0m12 0h0m-25 1h0m-18 1h0m19 0h0m2 0h0m18 0h0m2 0h0m-34 1h0m2 0h0m-53 82h0m17 1h0m-3 1h0m-8 4h0m10 0h0m5 0h0m-12 1h0m9 1h0m2 0h0m-22 1h0m21 0h0m-2 1h0m-7 2h0m18 2h0m-3 1h0m-15 1h0m20 0h0m-2 2h0m-17 2h0m9 1h0m-2 3h0m3 0h0" stroke="#a8a8a8" stroke-width="1.8" stroke-linecap="square"/>
<path d="M761 111h0m-5 1h0m5 0h0m-1 1h0m9 0h0m-1 1h0m-15 1h0m-8 1h0m6 0h0m16 0h0m-40 1h0m20 0h0m-4 1h0m8 0h0m17 0h0m-39 1h0m7 1h0m14 0h0m1 0h0m-3 1h0m8 0h0m7 0h0m4 1h0m-7 2h0m-6 1h0m6 0h0m2 0h0m-15 1h0m19 0h0m4 0h0m-10 1h0m4 0h0m-9 1h0m-3 2h0m3 1h0m14 0h0m-2 1h0m-9 1h0m9 0h0m-18 2h0m12 0h0m5 0h0m-2 1h0m-91 1h0m15 0h0m-23 1h0m37 0h0m52 0h0m0 1h0m2 0h0m-59 1h0m34 0h0m26 0h0m-65 1h0m11 0h0m38 0h0m-65 1h0m5 0h0m42 1h0m26 0h0m-13 1h0m-35 1h0m48 0h0m-37 1h0m-37 1h0m5 0h0m57 0h0m-38 1h0m4 0h0m30 0h0m9 0h0m-58 1h0m27 0h0m-7 1h0m14 0h0m-37 1h0m3 0h0m16 0h0m17 0h0m3 0h0m11 0h0m-16 1h0m9 0h0m5 0h0m-68 87h0m4 0h0m6 0h0m-13 1h0m18 0h0m-9 1h0m7 1h0m4 1h0m-14 1h0m13 8h0m13 4h0" stroke="#686460" stroke-width="1.8" stroke-linecap="square"/>
<path d="M791 102h0m1 0h0m0 9h0m-1 1h0m-1 4h0m-92 99h0m0 1h0m-1 2h0m1 3h0m1 0h0m3 0h0m-9 4h0m-2 4h0m-4 6h0m-3 3h0m2 0h0m-3 4h0m-1 2h0m1 1h0m-3 1h0" stroke="#686460" stroke-width="1.3" stroke-linecap="square"/>
<path d="M795 104h0m-4 4h0m-101 119h0m-1 2h0m3 0h0m-4 1h0m-4 4h0m2 1h0m-1 1h0m1 0h0m-4 3h0m0 2h0" stroke="#a8a8a8" stroke-width="1.3" stroke-linecap="square"/>
<path d="M788 101h0m2 1h0m4 15h0m-104 116h0m2 2h0m-9 8h0m2 2h0" stroke="#c8c4c0" stroke-width="1.3" stroke-linecap="square"/>
<path d="M792 97h0m1 6h0m-3 3h0m2 1h0m0 2h0m3 1h0m-4 5h0m2 1h0m-2 5h0m-92 97h0m-13 18h0m-1 2h0" stroke="#888480" stroke-width="1.3" stroke-linecap="square"/>
<path d="M786 101h0m8 3h0m4 7h0m-100 103h0m4 2h0m-4 1h0m-2 1h0m6 0h0m-3 3h0m-2 1h0m0 2h0m0 1h0m-3 1h0m-1 2h0m0 4h0m-4 3h0m2 1h0m-3 6h0m-5 4h0" stroke="#d8d4d0" stroke-width="1.3" stroke-linecap="square"/>
<path d="M680 135h0m7 0h0m-7 1h0m5 0h0m-16 1h0m19 0h0m0 1h0m-12 1h0m14 0h0m25 0h0m-10 1h0m21 0h0m1 0h0m-33 1h0m7 0h0m5 0h0m-35 2h0m28 0h0m10 0h0m2 0h0m6 0h0m1 0h0m-43 1h0m3 1h0m5 0h0m50 0h0m-41 1h0m45 0h0m54 0h0m-115 1h0m10 0h0m4 0h0m25 0h0m83 0h0m-75 1h0m16 0h0m-41 2h0m21 0h0m-5 1h0m60 3h0m-13 1h0m-8 2h0m17 0h0m12 0h0m11 0h0m-23 3h0m24 0h0m-113 1h0m-14 1h0m90 0h0m-20 1h0m63 0h0m-77 1h0m22 2h0m-88 1h0m-2 1h0m122 0h0m-99 1h0m76 0h0m-77 1h0m60 0h0m12 0h0m52 0h0m3 0h0m12 1h0m-119 1h0m100 0h0m-136 1h0m22 0h0m79 0h0m42 0h0m-102 1h0m43 1h0m35 0h0m9 0h0m24 0h0m-83 1h0m86 0h0m6 0h0m-110 1h0m-56 1h0m59 0h0m3 0h0m10 0h0m26 0h0m-20 1h0m22 0h0m2 0h0m-114 1h0m11 0h0m172 0h0m-181 1h0m85 0h0m7 0h0m12 0h0m-100 1h0m40 0h0m60 0h0m3 0h0m16 0h0m-16 1h0m51 0h0m-102 1h0m7 0h0m7 0h0m9 0h0m55 0h0m14 0h0m-98 3h0m2 1h0m52 0h0m61 0h0m-106 1h0m25 0h0m1 0h0m-20 1h0m33 0h0m17 0h0m6 0h0m41 0h0m-69 1h0m51 0h0m22 0h0m4 0h0m-56 1h0m3 0h0m-65 1h0m46 0h0m7 0h0m14 0h0m11 0h0m34 0h0m-66 1h0m9 0h0m-72 1h0m8 0h0m29 0h0m56 0h0m-31 1h0m5 0h0m19 0h0m-87 1h0m20 0h0m41 0h0m2 0h0m5 0h0m13 0h0m2 0h0m-95 1h0m42 0h0m44 0h0m12 0h0m-80 1h0m28 0h0m6 0h0m27 0h0m8 0h0m9 0h0m5 0h0m9 0h0m-87 1h0m54 0h0m13 0h0m4 0h0m4 0h0m35 0h0m20 0h0m-146 1h0m32 0h0m51 0h0m1 0h0m-67 1h0m8 0h0m59 0h0m-59 1h0m43 0h0m9 0h0m71 0h0m-104 1h0m29 0h0m8 0h0m2 0h0m4 0h0m1 0h0m33 0h0m11 0h0m-100 1h0m46 0h0m10 0h0m49 0h0m-129 1h0m34 0h0m34 0h0m4 0h0m8 0h0m6 0h0m-101 1h0m90 0h0m6 0h0m3 0h0m2 0h0m-72 1h0m68 0h0m31 0h0m25 0h0m-54 1h0m-13 1h0m14 0h0m3 0h0m-19 1h0m-7 1h0m22 0h0m4 0h0m31 1h0m-49 1h0m7 0h0m-31 1h0m-2 1h0m57 0h0m12 0h0m-33 1h0m7 0h0m4 0h0m40 2h0m-22 2h0m-76 2h0m57 3h0m-42 1h0m-1 1h0m63 0h0m-55 1h0m4 1h0m52 0h0m1 0h0m-2 1h0m-1 2h0m5 0h0m1 0h0m-35 1h0m2 0h0m-17 1h0m48 1h0m-24 1h0m10 1h0m-37 1h0m35 1h0m-1 5h0m-19 1h0" stroke="#b89878" stroke-width="1.8" stroke-linecap="square"/>
<path d="M676 135h0m37 3h0m3 1h0m-47 2h0m75 0h0m6 1h0m-70 1h0m53 0h0m-50 1h0m13 0h0m4 0h0m2 0h0m34 0h0m2 0h0m4 0h0m-72 1h0m1 0h0m7 0h0m1 0h0m12 0h0m9 0h0m16 0h0m10 0h0m-21 1h0m33 0h0m8 0h0m-2 1h0m-3 1h0m6 0h0m27 0h0m-20 1h0m32 0h0m-84 1h0m12 0h0m2 0h0m-2 1h0m-3 1h0m3 0h0m26 0h0m28 1h0m12 1h0m23 0h0m-23 1h0m12 2h0m-121 2h0m79 1h0m54 1h0m-152 1h0m126 0h0m18 0h0m-72 1h0m-79 1h0m87 0h0m13 2h0m2 0h0m-50 1h0m14 0h0m-50 1h0m74 0h0m64 1h0m-132 1h0m66 0h0m-88 1h0m48 0h0m2 1h0m54 0h0m30 2h0m-116 1h0m24 0h0m88 0h0m-133 1h0m3 0h0m84 0h0m5 0h0m60 0h0m32 0h0m-105 1h0m3 0h0m96 0h0m-153 1h0m95 0h0m1 0h0m27 0h0m27 0h0m-109 1h0m69 0h0m-86 2h0m66 0h0m-82 1h0m27 1h0m50 0h0m24 0h0m-118 1h0m19 0h0m65 0h0m-49 1h0m38 0h0m40 0h0m-124 2h0m54 0h0m69 0h0m6 1h0m36 0h0m-153 1h0m0 1h0m27 0h0m103 0h0m5 0h0m2 0h0m-116 1h0m20 0h0m11 0h0m74 2h0m16 0h0m1 0h0m23 0h0m-164 1h0m15 0h0m17 0h0m44 0h0m1 0h0m8 0h0m73 1h0m-113 1h0m4 0h0m117 0h0m-140 1h0m8 0h0m27 0h0m-44 1h0m44 0h0m54 1h0m-82 2h0m-14 1h0m42 1h0m56 0h0m-13 1h0m-97 1h0m102 0h0m29 0h0m-74 1h0m14 0h0m38 0h0m25 0h0m-48 1h0m6 0h0m-23 1h0m-16 2h0m5 0h0m78 0h0m-104 1h0m2 0h0m10 0h0m14 0h0m75 0h0m-96 1h0m99 0h0m-21 2h0m-21 1h0m20 0h0m-22 2h0m47 0h0m-68 1h0m34 0h0m36 0h0m-78 1h0m4 0h0m52 0h0m12 0h0m-34 1h0m46 0h0m-28 3h0m-51 1h0m47 0h0m-59 2h0m63 1h0m-56 1h0m69 0h0m-56 1h0m19 0h0m26 0h0m17 0h0m-23 1h0m22 3h0m-41 1h0m15 1h0m17 1h0m-11 1h0m-2 6h0m-12 2h0m7 0h0m-3 2h0m0 1h0" stroke="#d8c0a0" stroke-width="1.8" stroke-linecap="square"/>
<path d="M692 136h0m-25 1h0m29 0h0m-16 1h0m13 0h0m11 0h0m6 1h0m-34 1h0m3 0h0m3 0h0m6 0h0m42 0h0m-64 1h0m1 0h0m12 0h0m21 0h0m3 0h0m8 0h0m-29 1h0m24 0h0m17 0h0m-46 1h0m45 0h0m11 0h0m14 0h0m-5 1h0m-70 1h0m44 0h0m-2 1h0m20 0h0m57 0h0m-76 1h0m24 0h0m-63 1h0m14 0h0m55 0h0m-43 1h0m19 1h0m22 0h0m12 0h0m-36 1h0m30 0h0m-12 1h0m47 0h0m-22 1h0m42 1h0m-55 4h0m-82 1h0m8 1h0m132 1h0m-64 1h0m-91 2h0m3 0h0m93 1h0m-101 1h0m157 0h0m-37 1h0m44 0h0m-160 1h0m20 0h0m55 0h0m3 0h0m20 0h0m10 0h0m-6 1h0m-51 1h0m19 0h0m34 0h0m38 0h0m-24 1h0m-85 1h0m21 1h0m5 0h0m25 0h0m31 0h0m13 0h0m36 0h0m-31 1h0m8 0h0m25 0h0m-9 2h0m2 0h0m-70 1h0m24 1h0m-83 1h0m-27 1h0m49 0h0m64 0h0m-81 1h0m77 0h0m-55 1h0m2 0h0m38 1h0m26 0h0m-128 1h0m80 0h0m83 0h0m4 0h0m-166 1h0m55 0h0m33 0h0m-62 1h0m49 0h0m56 0h0m-65 1h0m17 0h0m64 0h0m-136 4h0m82 0h0m53 0h0m-82 1h0m44 0h0m10 1h0m-36 1h0m64 0h0m-131 1h0m53 0h0m75 0h0m-128 1h0m31 0h0m13 0h0m-16 1h0m6 0h0m50 0h0m30 0h0m9 0h0m-118 1h0m19 0h0m117 1h0m18 0h0m-52 1h0m-62 1h0m16 0h0m55 1h0m23 0h0m-40 2h0m18 0h0m-107 1h0m53 0h0m-55 1h0m30 0h0m121 1h0m-148 1h0m106 1h0m2 0h0m-104 1h0m73 0h0m-22 1h0m30 0h0m57 0h0m-117 1h0m79 0h0m-25 5h0m44 1h0m-39 1h0m8 0h0m-34 1h0m18 0h0m51 0h0m-71 2h0m15 1h0m17 1h0m44 0h0m4 0h0m-86 1h0m69 0h0m-62 1h0m32 0h0m24 0h0m10 2h0m-3 1h0m11 1h0m-39 1h0m-3 2h0m-18 1h0m29 1h0m11 0h0m2 2h0m-33 7h0m14 2h0m-3 1h0m4 0h0m4 1h0m3 2h0m-1 2h0m3 0h0m-4 1h0m-4 1h0m2 4h0m-3 1h0m1 0h0m9 0h0m-3 1h0m-6 4h0m-2 1h0m10 2h0m-10 1h0m4 0h0m7 3h0m1 0h0m-14 1h0m1 3h0m4 1h0m9 0h0m-1 1h0m-3 3h0m-10 2h0m12 0h0m1 2h0m-8 1h0m-7 2h0m8 2h0m-8 2h0m2 1h0m8 0h0m1 2h0m5 0h0m-7 2h0m7 0h0m-7 1h0m-8 1h0m2 1h0m9 1h0m-9 5h0m7 5h0m3 0h0m-9 2h0m1 2h0m5 1h0m-2 1h0m4 0h0m3 0h0m1 0h0m-2 1h0m-11 1h0m13 0h0m-13 1h0m10 0h0m-3 1h0m4 0h0m-13 1h0m10 1h0m-10 1h0m0 3h0m11 0h0m3 1h0m-10 2h0m0 1h0m2 0h0m5 0h0m-7 3h0m2 1h0m4 0h0m-8 2h0m4 0h0m-6 2h0m15 0h0m-14 1h0m11 1h0m-6 1h0m8 1h0m-14 1h0m14 0h0m-11 2h0m3 1h0m9 0h0m-11 1h0m3 0h0m9 4h0m-11 2h0m5 0h0m4 5h0m-15 7h0m11 0h0m-11 2h0m9 1h0m2 6h0m-3 4h0m-7 2h0m13 1h0m-5 1h0m7 0h0m-6 1h0m4 0h0m-1 3h0m1 2h0m2 1h0m-5 3h0m-9 1h0m12 0h0m-16 1h0m3 0h0m1 0h0m-2 1h0m8 1h0m8 2h0m-3 1h0m-14 3h0m15 1h0m2 0h0m-2 3h0m-15 3h0m14 0h0m-14 2h0m5 0h0m-3 2h0m13 5h0m2 0h0m-11 4h0m-6 2h0m6 0h0m4 4h0m-13 1h0m10 7h0m-8 1h0m0 1h0m18 0h0m-11 6h0m-6 1h0m7 2h0m8 0h0m-12 3h0m5 3h0m1 2h0m6 0h0m-5 1h0m0 1h0m-11 3h0m12 5h0m-13 3h0m-1 3h0m19 0h0m-18 1h0m15 0h0m-16 1h0m16 0h0m-8 2h0m4 0h0m0 5h0m-9 1h0m16 0h0m-5 1h0m-2 1h0m6 0h0m-13 3h0m-4 1h0m13 0h0m-2 3h0m-8 1h0m-7 1h0m12 1h0m5 0h0m0 5h0m-13 1h0m-1 2h0m12 1h0m-7 1h0m13 1h0m-6 1h0m2 0h0m1 1h0m-12 1h0m6 0h0m-4 2h0m11 0h0m-15 1h0m11 1h0m6 2h0m-19 1h0m11 0h0m4 0h0m2 0h0m-15 2h0m7 0h0m-12 1h0m3 1h0m1 1h0m7 0h0m8 0h0m-1 7h0m-2 3h0m-16 3h0m8 1h0m-7 1h0m20 1h0m-17 7h0m13 0h0m-11 1h0m14 0h0m-20 1h0m19 0h0m-13 1h0m-1 1h0m6 0h0m10 0h0m-3 5h0m-9 1h0m4 2h0m-13 1h0m9 1h0m2 1h0m-8 2h0m0 4h0m4 1h0m5 1h0m5 2h0m-11 3h0m-8 1h0m10 2h0m11 0h0m-10 3h0m5 3h0m-16 2h0m7 0h0m2 1h0m8 1h0m-5 3h0m1 0h0m2 2h0m3 0h0m-9 1h0m1 1h0m11 0h0m1 0h0m-22 1h0m14 0h0m0 2h0m-8 1h0m16 0h0m-15 3h0m14 0h0m-10 1h0m2 0h0m-1 2h0m3 0h0m-15 2h0m17 0h0m-16 1h0m17 0h0" stroke="#6a5040" stroke-width="1.8" stroke-linecap="square"/>
<path d="M695 136h0m-26 2h0m26 0h0m9 0h0m-30 1h0m14 0h0m-22 1h0m4 0h0m7 1h0m24 0h0m36 0h0m-64 1h0m21 0h0m33 0h0m-57 2h0m23 1h0m12 0h0m32 0h0m8 1h0m-70 1h0m9 0h0m10 0h0m1 0h0m54 0h0m-62 1h0m55 0h0m5 0h0m7 0h0m-40 1h0m32 0h0m3 0h0m-22 1h0m35 0h0m-51 1h0m27 0h0m4 0h0m-36 1h0m51 1h0m22 0h0m-11 1h0m-11 1h0m7 0h0m40 1h0m-140 2h0m114 0h0m-20 2h0m2 0h0m46 0h0m-131 1h0m74 0h0m-82 1h0m10 0h0m86 0h0m9 2h0m16 0h0m-145 1h0m88 0h0m4 1h0m-66 1h0m24 0h0m12 0h0m41 0h0m6 0h0m15 0h0m33 0h0m-83 1h0m54 0h0m-24 3h0m60 0h0m-110 1h0m5 0h0m115 0h0m-137 1h0m27 0h0m82 0h0m11 0h0m-85 1h0m70 0h0m13 0h0m5 0h0m-160 1h0m144 1h0m-104 1h0m28 0h0m62 0h0m-33 1h0m-95 1h0m73 0h0m-57 1h0m23 0h0m42 1h0m47 0h0m-81 2h0m98 0h0m-146 1h0m83 0h0m33 0h0m-80 1h0m54 0h0m82 0h0m-100 1h0m29 0h0m29 0h0m31 0h0m-154 3h0m2 0h0m121 0h0m-121 1h0m3 0h0m27 0h0m28 0h0m2 0h0m24 0h0m37 0h0m42 0h0m-139 1h0m13 0h0m14 0h0m-29 1h0m1 0h0m17 0h0m61 0h0m-28 1h0m78 0h0m-78 1h0m75 0h0m-44 1h0m16 0h0m2 0h0m-107 2h0m20 1h0m84 0h0m-100 1h0m36 1h0m8 0h0m81 0h0m-127 1h0m2 0h0m16 0h0m82 0h0m-86 1h0m26 1h0m89 0h0m13 0h0m-82 1h0m49 0h0m16 0h0m-112 1h0m125 0h0m-115 1h0m7 0h0m5 0h0m105 0h0m-26 1h0m31 0h0m-44 2h0m25 0h0m-121 1h0m32 1h0m26 0h0m27 1h0m-20 1h0m33 0h0m-62 1h0m26 1h0m4 0h0m25 0h0m27 0h0m5 2h0m18 0h0m-116 1h0m69 1h0m14 0h0m1 0h0m21 1h0m-35 1h0m-30 1h0m20 1h0m25 1h0m-2 2h0m-46 1h0m62 4h0m-27 1h0m-12 1h0m30 3h0m-32 1h0m-6 1h0m23 2h0m1 0h0m6 3h0m-12 3h0m-6 1h0" stroke="#8a6a50" stroke-width="1.8" stroke-linecap="square"/>
<path d="M679 135h0m14 1h0m13 1h0m-12 1h0m3 0h0m1 0h0m10 0h0m-33 1h0m0 1h0m1 0h0m48 0h0m3 0h0m-54 1h0m27 0h0m16 0h0m4 0h0m9 0h0m20 1h0m-75 1h0m5 0h0m53 0h0m2 0h0m4 0h0m-62 1h0m44 0h0m-46 1h0m21 0h0m14 0h0m16 0h0m7 0h0m-58 1h0m10 0h0m19 0h0m-3 1h0m9 0h0m28 0h0m26 0h0m-64 1h0m7 0h0m7 0h0m66 0h0m-57 1h0m21 0h0m-41 1h0m2 0h0m57 0h0m13 0h0m-89 1h0m17 0h0m39 0h0m37 0h0m-45 1h0m65 0h0m5 0h0m-49 1h0m37 1h0m-5 1h0m-27 1h0m10 0h0m28 2h0m-45 3h0m26 0h0m-102 1h0m126 0h0m-132 2h0m125 0h0m6 0h0m-39 1h0m-101 1h0m128 0h0m-98 1h0m9 1h0m47 0h0m2 0h0m16 0h0m1 0h0m37 0h0m-119 1h0m60 0h0m22 0h0m-112 1h0m2 0h0m13 0h0m39 1h0m38 0h0m-85 1h0m38 0h0m4 0h0m10 0h0m4 0h0m77 0h0m-86 1h0m36 0h0m17 0h0m-24 2h0m5 0h0m5 0h0m16 0h0m29 0h0m35 1h0m-175 1h0m92 1h0m26 0h0m-122 1h0m174 0h0m-180 1h0m165 0h0m12 0h0m-173 1h0m30 1h0m73 1h0m27 1h0m-58 1h0m64 1h0m2 0h0m-69 1h0m22 0h0m85 0h0m-142 1h0m19 0h0m90 0h0m35 0h0m-171 1h0m26 1h0m126 1h0m-116 1h0m19 0h0m9 0h0m-47 1h0m40 0h0m105 0h0m-102 1h0m25 0h0m-5 1h0m9 0h0m-13 1h0m2 0h0m-9 1h0m69 0h0m14 0h0m11 0h0m-111 1h0m48 0h0m8 0h0m-68 1h0m1 0h0m11 0h0m8 0h0m0 1h0m20 0h0m1 1h0m48 0h0m-8 1h0m20 0h0m18 1h0m-138 1h0m90 0h0m-76 1h0m7 7h0m30 0h0m74 0h0m-92 1h0m17 0h0m21 0h0m-40 1h0m20 0h0m66 0h0m-88 1h0m113 0h0m-103 1h0m65 0h0m13 0h0m-52 1h0m32 0h0m4 0h0m-67 1h0m27 0h0m22 0h0m12 1h0m14 5h0m5 0h0m7 0h0m-76 1h0m33 0h0m-34 1h0m61 2h0m-29 1h0m44 3h0m-42 3h0m4 0h0m-19 1h0m52 2h0m-29 1h0m4 0h0m22 1h0m-16 1h0m-19 1h0m1 0h0m33 0h0m-31 2h0m5 2h0" stroke="#c8b090" stroke-width="1.8" stroke-linecap="square"/>
<path d="M667 135h0m11 0h0m15 1h0m-6 1h0m0 1h0m-9 1h0m3 0h0m38 0h0m-2 1h0m-42 1h0m6 0h0m24 0h0m14 0h0m-23 1h0m-15 1h0m21 0h0m9 0h0m-37 1h0m42 0h0m17 0h0m10 0h0m-60 1h0m8 0h0m7 0h0m21 0h0m-7 1h0m21 0h0m-53 1h0m8 0h0m14 0h0m9 0h0m24 1h0m-27 2h0m31 0h0m3 0h0m1 0h0m-51 1h0m10 0h0m17 0h0m-33 1h0m20 0h0" stroke="#504840" stroke-width="1.8" stroke-linecap="square"/>
<path d="M676 135h0m8 0h0m-14 1h0m18 0h0m4 0h0m-9 1h0m17 0h0m-7 1h0m15 1h0m15 0h0m-35 1h0m24 0h0m-36 1h0m11 0h0m-12 1h0m16 0h0m19 0h0m7 0h0m-44 1h0m4 0h0m8 0h0m-5 1h0m52 0h0m9 0h0m-18 1h0m8 0h0m-25 1h0m5 0h0m13 0h0m1 0h0m12 0h0m-63 1h0m16 0h0m10 0h0m6 0h0m28 0h0m2 0h0m11 0h0m30 1h0m5 0h0m-98 1h0m35 0h0m13 0h0m52 0h0m-103 1h0m2 0h0m54 0h0m-30 1h0m34 0h0m20 0h0m3 0h0m-75 1h0m31 0h0m66 1h0m10 0h0m-12 2h0m18 2h0m-123 2h0m77 0h0m10 1h0m25 1h0m-121 3h0m11 0h0m102 0h0m-120 1h0m67 0h0m-58 1h0m9 0h0m40 0h0m-54 1h0m27 0h0m-39 1h0m55 0h0m44 0h0m54 0h0m-37 1h0m-80 1h0m40 0h0m6 0h0m17 0h0m46 0h0m-88 1h0m5 0h0m7 0h0m27 0h0m50 0h0m-110 1h0m2 0h0m122 0h0m-83 1h0m-87 1h0m88 0h0m-66 1h0m44 0h0m-7 1h0m17 0h0m-23 1h0m-28 1h0m19 0h0m107 0h0m-136 1h0m-6 1h0m103 0h0m22 0h0m-84 1h0m65 0h0m-117 1h0m19 0h0m91 0h0m10 0h0m-88 1h0m4 0h0m3 0h0m50 0h0m6 0h0m22 0h0m53 0h0m-56 1h0m4 0h0m13 0h0m-16 1h0m1 0h0m1 0h0m0 1h0m57 0h0m8 0h0m-64 1h0m5 0h0m24 0h0m-87 1h0m16 0h0m47 0h0m1 0h0m-115 1h0m101 0h0m9 0h0m-76 1h0m78 0h0m15 0h0m38 0h0m-141 1h0m83 0h0m-84 1h0m80 0h0m-100 1h0m92 0h0m9 0h0m6 0h0m-16 1h0m7 0h0m15 0h0m36 0h0m5 0h0m-110 1h0m83 1h0m1 0h0m-111 1h0m88 0h0m20 0h0m-112 1h0m11 0h0m3 0h0m107 1h0m-74 1h0m24 0h0m4 0h0m22 0h0m-52 1h0m-14 1h0m26 0h0m23 0h0m15 0h0m48 0h0m-50 1h0m3 0h0m47 0h0m-76 1h0m23 0h0m5 0h0m5 0h0m28 0h0m-84 1h0m8 0h0m40 0h0m4 0h0m2 0h0m41 0h0m-51 1h0m13 0h0m-13 1h0m-69 1h0m14 0h0m61 0h0m5 0h0m6 1h0m9 0h0m32 0h0m-55 1h0m2 0h0m1 0h0m6 0h0m53 0h0m-69 1h0m9 0h0m-3 1h0m-56 1h0m84 0h0m29 0h0m4 0h0m-64 1h0m22 0h0m-14 1h0m-18 1h0m35 0h0m28 0h0m-48 1h0m4 0h0m-52 1h0m16 0h0m32 0h0m2 0h0m16 0h0m-24 1h0m10 0h0m18 1h0m-71 1h0m40 0h0m20 0h0m35 0h0m0 1h0m-84 1h0m86 0h0m-11 7h0m5 0h0m-29 3h0m-32 1h0m3 0h0m8 1h0m31 1h0m7 1h0m-32 8h0m2 1h0" stroke="#a08060" stroke-width="1.8" stroke-linecap="square"/>
<path d="M812 124h0m-7 1h0m5 2h0m-5 2h0" stroke="#a89070" stroke-width="1.5" stroke-linecap="square"/>
<path d="M806 125h0m4 3h0m1 2h0" stroke="#c0a880" stroke-width="1.5" stroke-linecap="square"/>
<path d="M803 124h0m9 0h0m-7 1h0m7 4h0m-5 1h0m2 0h0" stroke="#8a7458" stroke-width="1.5" stroke-linecap="square"/>
<path d="M808 124h0m4 1h0m-4 1h0m0 1h0" stroke="#e0d0b0" stroke-width="1.5" stroke-linecap="square"/>
<path d="M812 124h0m-5 1h0" stroke="#b89c74" stroke-width="1.5" stroke-linecap="square"/>
<path d="M801 124h0m2 0h0m1 2h0m7 2h0m-7 1h0" stroke="#d0b890" stroke-width="1.5" stroke-linecap="square"/>
<path d="M820 101h0m14 2h0m-16 1h0m10 0h0m1 0h0m-10 1h0m-11 1h0m5 0h0m-5 2h0m3 0h0m8 0h0m-60 398h0m6 17h0m3 0h0m4 6h0" stroke="#a8a8a8" stroke-width="1.5" stroke-linecap="square"/>
<path d="M806 101h0m14 1h0m-9 2h0m2 0h0m-4 5h0m16 1h0m-13 2h0m7 1h0m0 2h0m-48 391h0m-14 5h0m13 5h0m-3 4h0m-9 1h0m0 1h0m3 1h0m7 4h0m0 1h0" stroke="#888480" stroke-width="1.5" stroke-linecap="square"/>
<path d="M814 103h0m-3 1h0m12 0h0m-16 1h0m25 0h0m-22 1h0m-1 1h0m19 1h0m1 0h0m-10 2h0m-3 1h0m-8 1h0m14 0h0m2 0h0m-2 1h0m-1 1h0m1 0h0m-11 4h0m1 0h0m-42 399h0m3 2h0m-9 1h0m-4 1h0m-4 6h0m5 0h0m10 0h0" stroke="#686460" stroke-width="1.5" stroke-linecap="square"/>
<path d="M815 101h0m-6 1h0m-2 1h0m26 2h0m-13 3h0m-12 1h0m19 0h0m-7 2h0m0 1h0m-1 3h0m-3 1h0m-7 1h0m8 0h0m-52 388h0m-3 14h0" stroke="#c8c4c0" stroke-width="1.5" stroke-linecap="square"/>
<path d="M806 103h0m17 7h0m-9 3h0m-1 3h0m-3 2h0m-39 393h0m-13 1h0m13 6h0m-7 4h0m-2 2h0m-1 2h0m1 0h0m-1 3h0m1 1h0" stroke="#d8d4d0" stroke-width="1.5" stroke-linecap="square"/>
<path d="M760 146h0m18 0h0m6 1h0m-14 7h0m-1 1h0m22 2h0m-122 1h0m116 0h0m-7 1h0m25 3h0m-47 3h0m-43 1h0m-66 1h0m7 0h0m136 0h0m11 0h0m10 0h0m-64 1h0m55 0h0m-153 2h0m-7 1h0m5 0h0m67 0h0m8 0h0m-31 1h0m86 0h0m-89 1h0m69 0h0m7 0h0m32 0h0m-38 1h0m28 0h0m-112 1h0m56 0h0m64 0h0m-131 1h0m3 0h0m18 1h0m137 0h0m-161 1h0m88 0h0m15 0h0m-85 1h0m-24 2h0m74 0h0m22 0h0m-83 1h0m82 0h0m17 0h0m40 0h0m-127 1h0m56 1h0m11 0h0m-100 1h0m5 0h0m88 0h0m7 0h0m61 0h0m7 0h0m11 0h0m-174 1h0m50 0h0m10 0h0m-62 1h0m25 0h0m25 0h0m8 0h0m-16 2h0m10 0h0m20 0h0m4 0h0m-34 1h0m-33 1h0m5 1h0m108 0h0m29 0h0m-134 1h0m94 0h0m57 2h0m3 0h0m-118 1h0m33 0h0m-46 1h0m-12 1h0m58 0h0m71 0h0m-137 1h0m40 0h0m98 0h0m-66 1h0m-51 1h0m6 0h0m43 0h0m32 0h0m6 0h0m41 0h0m-112 1h0m35 0h0m-62 1h0m53 1h0m33 0h0m-34 1h0m17 1h0m-78 1h0m93 0h0m8 0h0m-15 1h0m19 0h0m31 0h0m-87 1h0m10 0h0m8 0h0m34 0h0m21 0h0m-84 1h0m7 0h0m10 0h0m21 0h0m-45 1h0m44 0h0m14 0h0m40 0h0m-89 1h0m5 0h0m39 0h0m-16 1h0m51 0h0m8 0h0m-20 1h0m31 0h0m-81 1h0m3 2h0m85 0h0m-96 1h0m25 0h0m-35 3h0m11 0h0m70 1h0m4 0h0m-69 1h0m-7 2h0m27 1h0m36 0h0m-48 1h0m18 0h0m12 0h0m16 0h0m28 1h0m-53 1h0m5 0h0m15 0h0m-3 1h0m24 0h0m-49 1h0m17 0h0m37 0h0m-47 3h0m1 0h0m25 0h0m-16 2h0m19 1h0m0 1h0m-23 2h0m8 0h0m9 1h0m-1 4h0" stroke="#9a90a8" stroke-width="1.8" stroke-linecap="square"/>
<path d="M776 146h0m-7 2h0m-5 1h0m10 0h0m-19 5h0m11 0h0m-13 1h0m-2 1h0m19 0h0m-93 3h0m4 0h0m79 0h0m-84 1h0m11 1h0m62 1h0m53 0h0m-55 1h0m44 1h0m-120 1h0m6 0h0m3 0h0m45 0h0m-25 1h0m-2 1h0m47 0h0m-85 1h0m92 0h0m8 1h0m-8 1h0m-93 1h0m70 1h0m-43 1h0m-41 1h0m89 0h0m21 0h0m22 0h0m-82 1h0m32 0h0m46 0h0m-49 1h0m28 0h0m-24 1h0m38 0h0m12 0h0m-111 1h0m1 0h0m47 0h0m13 0h0m62 0h0m29 0h0m-176 1h0m102 0h0m6 0h0m5 0h0m15 0h0m-92 1h0m19 0h0m-29 1h0m104 0h0m-75 1h0m85 0h0m-69 1h0m2 0h0m64 0h0m4 0h0m29 0h0m-22 1h0m-65 1h0m-56 1h0m85 0h0m-77 1h0m-10 1h0m50 2h0m50 0h0m31 0h0m14 0h0m-76 1h0m45 0h0m5 0h0m-104 3h0m68 0h0m19 0h0m-109 2h0m152 0h0m-131 2h0m11 0h0m9 2h0m68 0h0m-20 1h0m-69 2h0m20 0h0m-28 1h0m8 0h0m8 0h0m37 0h0m53 0h0m-37 1h0m24 0h0m25 0h0m-5 1h0m28 0h0m2 0h0m-110 2h0m28 0h0m14 0h0m11 0h0m19 1h0m23 0h0m-41 2h0m53 1h0m-111 1h0m2 0h0m1 0h0m11 0h0m5 0h0m25 0h0m33 0h0m-90 1h0m91 0h0m-90 1h0m33 0h0m39 0h0m10 0h0m-75 1h0m49 0h0m50 0h0m-98 1h0m62 1h0m6 1h0m36 0h0m-24 3h0m-63 1h0m72 0h0m-38 1h0m57 0h0m-76 1h0m9 0h0m30 0h0m13 0h0m26 1h0m-61 2h0m56 0h0m-58 1h0m26 1h0m6 0h0m19 0h0m-19 3h0m11 2h0m-42 2h0m14 1h0m6 0h0m12 2h0m-24 1h0m8 6h0" stroke="#e8e0e0" stroke-width="1.8" stroke-linecap="square"/>
<path d="M799 147h0m-18 1h0m-28 5h0m25 0h0m2 1h0m-26 2h0m21 0h0m16 0h0m4 0h0m-31 1h0m-5 1h0m37 1h0m-33 3h0m10 0h0m-123 1h0m138 0h0m-20 1h0m-2 1h0m-113 1h0m38 0h0m8 1h0m20 0h0m69 0h0m-124 1h0m92 0h0m-43 2h0m-1 1h0m35 0h0m6 0h0m-95 1h0m151 2h0m-140 2h0m25 0h0m117 0h0m-154 1h0m3 0h0m9 0h0m38 0h0m97 0h0m-144 1h0m163 0h0m-127 1h0m97 0h0m2 0h0m-153 1h0m9 0h0m28 0h0m34 0h0m14 0h0m80 0h0m13 1h0m-28 1h0m-5 1h0m-100 1h0m65 0h0m56 0h0m-83 1h0m43 0h0m-71 1h0m30 0h0m-59 1h0m4 1h0m42 0h0m22 1h0m55 0h0m-130 1h0m96 0h0m39 0h0m-41 3h0m-74 1h0m63 1h0m45 0h0m-112 1h0m130 0h0m-139 1h0m53 0h0m41 0h0m-7 1h0m24 0h0m24 0h0m-35 2h0m19 0h0m17 0h0m-44 1h0m-50 1h0m8 1h0m79 0h0m1 0h0m-40 1h0m11 1h0m36 0h0m-57 1h0m2 0h0m-81 1h0m111 0h0m30 0h0m-15 1h0m-93 1h0m1 0h0m118 0h0m-29 1h0m13 0h0m-32 1h0m28 0h0m-91 1h0m56 1h0m-3 3h0m-34 1h0m-23 1h0m82 0h0m-81 2h0m18 0h0m27 1h0m20 0h0m-38 2h0m-8 1h0m31 0h0m16 0h0m26 0h0m-65 1h0m16 0h0m1 0h0m29 1h0m-34 2h0m-17 2h0m34 4h0m30 0h0m-37 1h0m3 1h0m13 0h0m20 1h0m-46 3h0m43 1h0m-2 1h0m-14 2h0m-3 2h0" stroke="#201820" stroke-width="1.8" stroke-linecap="square"/>
<path d="M761 148h0m21 2h0m-23 3h0m31 0h0m-18 1h0m-10 2h0m41 0h0m-17 2h0m-121 1h0m20 0h0m86 0h0m-21 3h0m-17 1h0m25 0h0m47 1h0m-28 2h0m-71 1h0m37 0h0m-57 2h0m-25 1h0m131 0h0m-140 1h0m57 1h0m61 1h0m25 0h0m-33 2h0m63 0h0m-81 2h0m9 0h0m21 0h0m22 0h0m-149 1h0m14 0h0m63 0h0m21 0h0m-92 1h0m30 0h0m23 0h0m27 0h0m38 0h0m-79 2h0m10 0h0m65 0h0m-114 2h0m4 0h0m30 0h0m96 0h0m1 0h0m-139 1h0m13 0h0m11 0h0m12 0h0m-37 1h0m53 0h0m1 0h0m51 0h0m2 1h0m-106 1h0m14 0h0m30 0h0m12 0h0m90 1h0m-138 1h0m18 1h0m96 0h0m-114 1h0m68 1h0m-45 1h0m140 0h0m-55 1h0m10 0h0m11 1h0m23 0h0m8 0h0m-88 2h0m15 0h0m-13 1h0m-57 1h0m90 0h0m-81 1h0m6 0h0m59 1h0m-4 1h0m42 1h0m-37 1h0m7 0h0m27 1h0m13 0h0m-78 1h0m68 0h0m-87 2h0m104 0h0m-107 1h0m63 1h0m4 0h0m15 0h0m23 0h0m-75 1h0m81 0h0m10 0h0m-82 1h0m-41 1h0m26 0h0m71 0h0m-13 1h0m-37 2h0m-21 2h0m56 0h0m6 1h0m-55 1h0m4 1h0m37 0h0m1 0h0m13 0h0m-19 1h0m-30 1h0m76 0h0m-64 1h0m50 3h0m10 1h0m-14 2h0m-32 2h0m-17 1h0m7 1h0m24 0h0m-34 1h0m35 0h0m-24 2h0m11 0h0m35 0h0m1 1h0m-39 3h0m14 0h0m-1 3h0m9 1h0" stroke="#3a3030" stroke-width="1.8" stroke-linecap="square"/>
<path d="M792 150h0m-37 2h0m5 2h0m18 1h0m-25 1h0m-95 4h0m94 0h0m30 0h0m-43 1h0m8 0h0m13 0h0m17 1h0m-92 1h0m85 0h0m2 0h0m-24 1h0m-91 1h0m15 0h0m12 0h0m42 0h0m63 1h0m-145 1h0m25 0h0m38 0h0m19 0h0m29 0h0m53 0h0m-147 1h0m34 1h0m26 1h0m77 0h0m-115 1h0m120 0h0m-154 1h0m81 0h0m-71 1h0m3 0h0m16 0h0m26 0h0m30 0h0m-64 1h0m27 0h0m74 0h0m-20 1h0m66 0h0m-173 1h0m72 0h0m90 0h0m-160 1h0m38 0h0m120 0h0m17 0h0m-161 1h0m46 0h0m-20 1h0m43 0h0m16 0h0m22 0h0m-125 2h0m105 0h0m13 0h0m23 0h0m6 0h0m26 0h0m-156 1h0m92 0h0m47 0h0m1 0h0m5 0h0m-162 1h0m45 0h0m123 0h0m-117 2h0m32 0h0m-79 2h0m44 0h0m6 0h0m15 0h0m20 0h0m67 0h0m-104 1h0m24 0h0m89 0h0m-66 1h0m12 0h0m59 0h0m-153 1h0m6 0h0m29 0h0m20 1h0m77 0h0m-42 1h0m12 0h0m18 0h0m-41 1h0m-77 1h0m52 0h0m19 0h0m-45 1h0m50 0h0m-21 1h0m-34 1h0m54 0h0m82 0h0m-110 1h0m40 1h0m17 0h0m12 0h0m46 0h0m-99 1h0m-41 1h0m11 1h0m125 0h0m-148 1h0m33 0h0m37 0h0m6 0h0m30 1h0m46 0h0m-157 1h0m36 0h0m-13 1h0m64 1h0m66 0h0m-136 1h0m16 0h0m61 0h0m-52 1h0m62 0h0m-38 1h0m79 0h0m-95 1h0m-16 1h0m-7 1h0m28 0h0m76 0h0m6 1h0m-101 1h0m50 1h0m45 0h0m-11 1h0m-43 2h0m3 0h0m50 3h0m12 3h0m-26 1h0m-21 1h0m-1 1h0m2 1h0m-6 1h0m13 1h0m3 2h0m-18 1h0m-20 1h0m10 0h0m37 3h0m-21 3h0m3 0h0m2 1h0m14 2h0m-1 3h0" stroke="#5a4838" stroke-width="1.8" stroke-linecap="square"/>
<path d="M767 149h0m26 1h0m-42 7h0m-1 1h0m10 1h0m14 0h0m25 0h0m-119 4h0m101 0h0m7 0h0m-106 1h0m123 0h0m-90 1h0m-49 1h0m79 0h0m53 0h0m-61 2h0m-93 1h0m60 0h0m22 0h0m28 0h0m19 0h0m20 0h0m10 0h0m-11 1h0m-141 1h0m1 0h0m41 0h0m-9 1h0m-4 1h0m21 0h0m32 0h0m5 0h0m49 1h0m-77 1h0m4 0h0m3 0h0m89 0h0m-138 1h0m140 0h0m-130 1h0m27 0h0m46 0h0m19 0h0m-99 1h0m83 0h0m28 0h0m13 0h0m-136 1h0m6 0h0m32 0h0m16 0h0m74 0h0m-110 1h0m63 0h0m82 0h0m-89 1h0m94 0h0m-98 1h0m86 1h0m-170 1h0m89 0h0m56 0h0m30 1h0m-59 1h0m-3 2h0m18 0h0m34 0h0m-144 1h0m7 0h0m55 0h0m-48 1h0m2 0h0m103 0h0m30 0h0m-131 1h0m42 0h0m62 0h0m-1 1h0m-87 1h0m119 0h0m-25 1h0m19 0h0m-83 1h0m-68 1h0m20 0h0m-16 1h0m3 0h0m1 0h0m147 1h0m9 0h0m-150 1h0m14 0h0m37 0h0m58 0h0m-38 1h0m6 0h0m25 0h0m20 0h0m-112 1h0m97 0h0m14 1h0m9 0h0m-125 1h0m32 2h0m-15 2h0m102 1h0m14 0h0m-30 3h0m-49 1h0m12 1h0m33 1h0m-52 1h0m7 0h0m18 0h0m19 0h0m-8 1h0m-21 2h0m48 0h0m-80 1h0m3 1h0m32 0h0m60 0h0m-33 1h0m-14 2h0m11 0h0m16 2h0m4 0h0m-57 1h0m31 0h0m28 0h0m-68 1h0m8 1h0m5 2h0m23 1h0m2 1h0m16 0h0m17 1h0m-61 1h0m54 0h0m11 1h0m-30 1h0m3 0h0m2 0h0m-8 1h0m7 1h0m17 1h0m-5 2h0m-17 1h0m16 2h0m-16 1h0m9 1h0m-8 4h0m4 1h0m3 0h0m-3 1h0m4 0h0m-14 2h0m8 0h0m1 0h0m2 0h0m5 0h0m-10 1h0m-1 1h0m5 1h0m-1 1h0m-3 3h0m8 0h0m-5 1h0m3 0h0m-4 6h0m5 0h0m0 3h0m-4 1h0m3 0h0m-4 1h0m3 0h0m1 0h0m-12 7h0m10 0h0m-3 6h0m5 1h0m1 0h0m0 1h0m-9 1h0m10 2h0m-11 1h0m-1 4h0m13 0h0m-13 3h0m11 0h0m-11 2h0m10 0h0m-11 4h0m3 0h0m5 0h0m-4 1h0m2 5h0m-1 1h0m-6 1h0m1 0h0m13 1h0m3 0h0m-3 1h0m-3 2h0m-1 1h0m-10 3h0m9 1h0m4 0h0m-11 3h0m-1 1h0m7 0h0m1 0h0m-4 3h0m1 0h0m8 0h0m-12 3h0m6 2h0m-7 2h0m6 0h0m-1 3h0m2 0h0m4 0h0m1 1h0m-8 1h0m3 0h0m-6 1h0m7 1h0m2 1h0m-8 2h0m1 1h0m3 1h0m1 0h0m7 0h0m-13 1h0m-1 3h0m8 0h0m7 0h0m-13 2h0m12 1h0m-6 3h0m3 0h0m-7 1h0m6 2h0m-10 1h0m13 3h0m-9 1h0m11 0h0m-8 2h0m8 0h0m-7 1h0m-7 13h0m5 9h0m-5 1h0m1 2h0m2 3h0m-6 2h0m9 1h0m-7 2h0m0 4h0m15 0h0m-19 1h0m20 1h0m-18 3h0m4 0h0m8 2h0m3 0h0m1 0h0m-3 1h0m-9 3h0m7 1h0m-10 1h0m-2 2h0m5 0h0m7 1h0m-5 2h0m8 0h0m-9 2h0m8 1h0m-6 1h0m-5 2h0m-1 1h0m14 0h0m-10 3h0m7 0h0m-15 1h0m3 3h0m10 0h0m-12 1h0m12 1h0m2 1h0m-2 4h0m2 1h0m-16 1h0m12 1h0m0 1h0m-6 1h0m4 1h0m-2 2h0m2 0h0m-1 2h0m-3 1h0m-5 1h0m8 0h0m11 3h0m-15 3h0m6 2h0m-2 1h0m11 0h0m-3 1h0m-9 4h0m-1 1h0m-4 2h0m10 1h0m1 2h0m-2 1h0m-8 1h0m-1 4h0m3 1h0m2 0h0m6 0h0m-2 1h0m2 1h0m-3 1h0m-2 1h0m8 0h0m-13 1h0m11 2h0m-7 4h0m-1 1h0m13 0h0m-21 1h0m21 0h0m-16 1h0m13 0h0m-4 1h0m-6 1h0m1 0h0m3 1h0m7 1h0m-6 1h0m-12 5h0m1 0h0m-3 2h0m2 1h0m11 0h0m6 1h0m-16 2h0m-3 2h0m12 0h0m4 0h0m3 0h0m-1 1h0m-11 1h0m2 1h0m-1 7h0m-9 1h0m1 1h0m2 0h0m3 1h0m4 1h0m-9 2h0m17 0h0m3 0h0m-17 1h0m4 1h0m1 0h0m-1 3h0m12 2h0m-14 2h0m7 0h0m-2 1h0m0 1h0m-8 4h0m3 1h0m10 0h0m-7 2h0m12 1h0m-19 2h0m4 0h0m3 0h0m-1 1h0m7 0h0m1 1h0m-3 1h0m-11 7h0m-2 2h0m14 0h0m3 3h0m2 1h0m-17 4h0m8 0h0m6 0h0m-4 1h0m-6 1h0m-8 2h0m14 0h0m-7 1h0m-5 2h0m13 1h0m3 2h0m-12 2h0m3 1h0m5 1h0m6 0h0m-10 4h0m-1 1h0m7 0h0m-11 1h0m1 0h0m1 0h0m9 0h0m-9 2h0m2 2h0m-2 3h0m7 0h0m-6 1h0m-7 3h0" stroke="#5a4a48" stroke-width="1.8" stroke-linecap="square"/>
<path d="M772 147h0m20 2h0m-8 1h0m-24 4h0m5 0h0m10 0h0m-5 1h0m20 0h0m-44 3h0m-85 1h0m88 0h0m-81 1h0m92 0h0m41 0h0m0 1h0m5 0h0m-68 1h0m68 0h0m-132 1h0m108 0h0m15 0h0m-150 1h0m80 2h0m74 0h0m-140 1h0m12 0h0m11 0h0m79 0h0m31 0h0m-94 1h0m31 0h0m27 0h0m-87 1h0m12 0h0m9 1h0m66 0h0m1 0h0m-113 1h0m11 0h0m20 0h0m8 1h0m87 0h0m-130 1h0m23 0h0m6 0h0m6 1h0m25 0h0m31 0h0m28 0h0m-118 1h0m105 0h0m44 0h0m9 0h0m-55 1h0m50 0h0m3 0h0m-128 1h0m32 0h0m109 0h0m-155 1h0m15 0h0m44 0h0m19 0h0m-1 1h0m-83 1h0m47 0h0m36 0h0m24 0h0m2 0h0m36 0h0m-66 1h0m-62 1h0m96 1h0m-18 1h0m53 0h0m16 0h0m-5 1h0m-136 1h0m2 0h0m8 0h0m53 1h0m-26 1h0m14 0h0m-8 1h0m25 0h0m7 0h0m-71 1h0m34 0h0m29 0h0m-44 1h0m48 0h0m32 0h0m-28 2h0m36 0h0m-93 1h0m77 0h0m-45 1h0m78 0h0m-137 2h0m33 0h0m36 0h0m5 0h0m51 0h0m8 0h0m-125 1h0m5 0h0m73 0h0m36 0h0m-77 1h0m86 0h0m-38 2h0m48 1h0m-131 1h0m26 0h0m28 0h0m95 0h0m-97 1h0m9 0h0m66 0h0m-104 1h0m1 1h0m39 0h0m14 0h0m51 0h0m-55 1h0m9 0h0m7 0h0m8 0h0m8 0h0m43 0h0m-19 1h0m-53 1h0m27 0h0m-51 1h0m24 0h0m34 1h0m-54 1h0m80 0h0m-129 1h0m108 0h0m-24 1h0m-9 2h0m56 0h0m-9 3h0m-38 2h0m-51 1h0m47 0h0m2 0h0m37 0h0m-71 1h0m12 0h0m23 1h0m-41 1h0m47 0h0m-36 1h0m20 0h0m21 1h0m20 0h0m-65 1h0m12 0h0m45 1h0m-27 7h0m22 0h0m-1 1h0m7 0h0m-17 1h0m-16 1h0m10 1h0m8 0h0m5 2h0" stroke="#6a5a58" stroke-width="1.8" stroke-linecap="square"/>
<path d="M720 162h0m26 0h0m-34 2h0m10 0h0m4 0h0m2 0h0m2 0h0m9 0h0m7 1h0m-31 1h0m21 0h0m14 0h0m-42 1h0m12 0h0m-2 1h0m40 0h0m-54 1h0m16 1h0m38 0h0m-59 1h0m21 0h0m30 0h0m1 0h0m5 0h0m-60 1h0m3 0h0m2 0h0m23 0h0m19 0h0m6 0h0m8 0h0m-43 1h0m2 0h0m9 0h0m2 0h0m19 0h0m-44 1h0m8 0h0m8 0h0m26 0h0m1 0h0m-48 1h0m14 0h0m11 0h0m3 0h0m15 0h0m-18 1h0m-27 1h0m21 0h0m7 0h0m20 0h0m-46 1h0m2 0h0m54 1h0m5 0h0m-40 1h0m11 0h0m21 0h0m-22 1h0m-28 1h0m42 0h0m8 0h0m5 0h0m-48 1h0m14 0h0m19 0h0m14 0h0m-49 1h0m20 0h0m10 1h0m13 0h0m-27 1h0m16 0h0m-17 1h0m1 0h0m3 0h0m11 0h0m15 0h0m-31 1h0m2 0h0m4 0h0m29 0h0m-29 1h0m20 0h0m4 1h0m2 0h0m-21 1h0m2 0h0m-25 1h0m0 1h0m10 0h0m4 0h0m2 0h0m-6 2h0m2 0h0m18 0h0m5 0h0m-30 1h0m6 0h0m13 0h0m16 0h0m-18 1h0m-15 1h0m13 0h0m19 0h0m-18 1h0m-13 1h0m1 0h0m9 0h0m3 0h0m3 0h0m-14 1h0m6 0h0m8 3h0m4 0h0m3 0h0m10 1h0m-26 1h0m14 0h0m-5 1h0m5 0h0m6 1h0m5 0h0m-3 1h0m0 1h0m-19 2h0m8 0h0m9 0h0m-3 1h0m-5 1h0m0 1h0m1 1h0" stroke="#6a7a30" stroke-width="1.9" stroke-linecap="square"/>
<path d="M716 162h0m7 0h0m12 1h0m6 0h0m-20 3h0m4 0h0m33 0h0m-38 1h0m7 0h0m17 0h0m11 0h0m-34 1h0m24 1h0m1 0h0m4 0h0m6 0h0m-43 1h0m16 0h0m7 0h0m-43 1h0m56 0h0m-56 1h0m3 0h0m21 0h0m19 0h0m7 0h0m9 0h0m-53 1h0m17 0h0m33 1h0m2 0h0m-55 1h0m13 0h0m20 0h0m20 0h0m3 0h0m-58 1h0m1 0h0m9 0h0m45 0h0m-49 1h0m43 0h0m-48 1h0m26 0h0m1 0h0m-8 1h0m19 0h0m8 0h0m-24 2h0m18 0h0m12 1h0m-35 1h0m1 0h0m7 0h0m26 0h0m-39 1h0m17 0h0m11 0h0m11 0h0m4 0h0m-48 1h0m7 1h0m19 0h0m21 0h0m-46 2h0m11 0h0m2 0h0m6 0h0m11 0h0m-36 1h0m8 0h0m42 0h0m6 0h0m-54 1h0m28 0h0m-31 1h0m33 0h0m-26 1h0m6 0h0m16 0h0m-5 1h0m-4 1h0m15 0h0m11 1h0m-35 1h0m3 0h0m30 0h0m-11 1h0m8 0h0m-18 3h0m16 0h0m13 0h0m-34 1h0m3 0h0m12 0h0m-9 1h0m15 0h0m1 0h0m4 0h0m-23 1h0m8 0h0m6 2h0m2 0h0m8 1h0m-16 1h0m9 0h0m1 0h0m2 0h0m5 0h0m5 1h0m-17 1h0m5 0h0m1 0h0m-5 1h0m2 4h0m2 1h0m10 0h0" stroke="#a8b060" stroke-width="1.9" stroke-linecap="square"/>
<path d="M727 162h0m-7 2h0m7 0h0m9 0h0m-29 1h0m3 0h0m2 0h0m7 0h0m6 0h0m11 1h0m-29 1h0m16 0h0m-16 1h0m3 0h0m7 0h0m27 0h0m14 0h0m-62 1h0m31 0h0m12 0h0m2 1h0m5 0h0m-44 1h0m20 0h0m-30 1h0m1 0h0m37 0h0m1 0h0m17 0h0m2 0h0m-29 1h0m9 0h0m1 0h0m9 0h0m-47 1h0m7 0h0m3 0h0m15 0h0m20 0h0m20 0h0m-25 2h0m17 0h0m4 0h0m-52 1h0m10 0h0m40 1h0m-32 1h0m3 0h0m12 0h0m-39 1h0m17 0h0m7 0h0m13 0h0m-9 1h0m26 0h0m-58 1h0m8 0h0m3 0h0m6 0h0m24 0h0m-14 1h0m-21 1h0m18 0h0m-23 1h0m12 0h0m2 0h0m7 0h0m9 0h0m36 0h0m-25 1h0m24 0h0m-23 1h0m7 0h0m-31 1h0m37 0h0m6 1h0m-57 1h0m19 0h0m11 0h0m-1 1h0m-22 1h0m32 0h0m-22 1h0m26 0h0m-15 2h0m23 0h0m-40 1h0m9 0h0m-9 1h0m23 0h0m4 0h0m11 0h0m-36 1h0m13 1h0m15 0h0m2 0h0m-28 1h0m10 0h0m2 0h0m8 0h0m2 0h0m2 1h0m0 1h0m10 0h0m-31 1h0m4 0h0m-1 1h0m25 0h0m-17 1h0m10 0h0m-17 1h0m7 0h0m1 0h0m2 0h0m-3 1h0m8 1h0m-7 1h0m13 1h0m-8 1h0m0 1h0m8 1h0m-9 3h0m11 0h0" stroke="#5a6a28" stroke-width="1.9" stroke-linecap="square"/>
<path d="M727 161h0m-11 1h0m27 1h0m-28 2h0m2 0h0m27 0h0m7 0h0m3 1h0m-22 1h0m9 0h0m-47 1h0m25 0h0m-1 1h0m28 0h0m5 0h0m-58 1h0m16 0h0m31 0h0m6 0h0m4 0h0m-52 1h0m1 1h0m43 0h0m-48 1h0m19 0h0m26 0h0m-41 2h0m22 0h0m23 0h0m-47 1h0m13 0h0m16 0h0m11 0h0m19 0h0m-31 1h0m9 0h0m7 0h0m2 0h0m5 0h0m2 0h0m4 0h0m-54 1h0m5 0h0m37 0h0m5 0h0m-33 1h0m35 0h0m-50 1h0m9 0h0m15 0h0m8 0h0m-13 1h0m21 0h0m6 0h0m-31 1h0m24 0h0m1 0h0m4 0h0m3 0h0m14 0h0m-64 1h0m-2 1h0m25 0h0m10 0h0m4 0h0m27 0h0m-61 1h0m9 0h0m41 0h0m-56 1h0m1 0h0m36 0h0m15 0h0m3 0h0m-40 1h0m47 0h0m3 1h0m-34 1h0m8 0h0m10 0h0m-34 1h0m1 0h0m-1 1h0m-3 1h0m2 1h0m1 0h0m24 0h0m1 0h0m-21 1h0m1 0h0m10 0h0m-14 1h0m3 0h0m6 0h0m25 0h0m-36 1h0m5 0h0m5 0h0m6 0h0m16 0h0m-28 1h0m20 2h0m4 1h0m6 1h0m4 0h0m-17 1h0m6 0h0m-12 1h0m12 0h0m13 0h0m-7 2h0m-20 1h0m4 2h0m20 0h0m2 0h0m-20 1h0m14 0h0m4 0h0m-17 3h0m2 0h0m2 3h0m8 0h0m3 2h0m2 1h0" stroke="#7a8a38" stroke-width="1.9" stroke-linecap="square"/>
<path d="M754 163h0m-40 1h0m26 0h0m1 0h0m5 0h0m10 0h0m-52 1h0m4 1h0m18 1h0m4 0h0m-4 1h0m7 0h0m13 0h0m-46 1h0m46 0h0m-26 1h0m31 0h0m3 0h0m2 0h0m-1 1h0m-59 1h0m39 0h0m15 0h0m7 0h0m-58 1h0m30 0h0m27 0h0m-63 1h0m55 0h0m-11 1h0m6 0h0m4 0h0m9 0h0m-57 1h0m22 0h0m26 0h0m-29 1h0m19 0h0m10 0h0m-7 1h0m12 0h0m-43 1h0m22 0h0m4 0h0m12 0h0m-25 1h0m4 0h0m-23 1h0m-5 1h0m1 0h0m5 0h0m3 0h0m48 0h0m-47 2h0m17 0h0m1 0h0m4 0h0m12 0h0m-50 1h0m32 0h0m-22 1h0m21 0h0m15 0h0m12 0h0m7 0h0m1 0h0m-24 1h0m14 0h0m-16 1h0m13 0h0m2 0h0m-53 1h0m33 0h0m-22 1h0m9 0h0m7 0h0m1 0h0m16 0h0m12 0h0m-54 1h0m28 0h0m-7 1h0m7 1h0m9 0h0m17 0h0m3 0h0m-50 1h0m20 0h0m7 0h0m4 0h0m9 0h0m-28 1h0m9 0h0m-13 2h0m37 0h0m-35 1h0m18 0h0m-9 2h0m-5 1h0m13 0h0m18 2h0m-25 1h0m3 0h0m12 0h0m-16 1h0m21 0h0m-11 1h0m11 2h0m2 1h0m-19 1h0m3 0h0m17 0h0m-5 1h0m0 5h0" stroke="#4a5a28" stroke-width="1.9" stroke-linecap="square"/>
<path d="M736 162h0m10 0h0m-20 1h0m14 0h0m16 0h0m-32 1h0m24 0h0m1 1h0m3 0h0m-16 1h0m-31 1h0m14 0h0m18 0h0m5 0h0m-24 1h0m19 0h0m-13 1h0m-23 1h0m1 0h0m3 0h0m17 0h0m5 0h0m1 0h0m3 1h0m2 0h0m-32 1h0m2 0h0m1 0h0m22 0h0m30 0h0m-15 1h0m14 0h0m-30 1h0m30 0h0m-46 1h0m18 0h0m10 0h0m3 0h0m18 1h0m1 0h0m-56 1h0m23 0h0m11 0h0m19 0h0m-62 2h0m19 0h0m44 0h0m-4 1h0m-18 1h0m4 0h0m14 0h0m-14 1h0m-39 1h0m19 0h0m36 0h0m-50 1h0m5 0h0m28 0h0m18 0h0m-54 1h0m57 0h0m-40 1h0m-20 1h0m2 0h0m40 0h0m14 0h0m-35 1h0m3 0h0m3 0h0m24 0h0m-51 1h0m17 0h0m9 0h0m2 0h0m11 0h0m-43 1h0m1 0h0m1 0h0m9 0h0m13 0h0m18 0h0m-22 1h0m13 0h0m18 0h0m-13 1h0m9 1h0m6 0h0m-37 1h0m8 0h0m1 0h0m9 0h0m12 0h0m-30 1h0m6 0h0m22 0h0m4 0h0m-9 1h0m14 0h0m-18 2h0m9 1h0m1 0h0m-24 2h0m22 0h0m3 0h0m2 0h0m3 0h0m-25 1h0m24 0h0m1 0h0m-27 1h0m18 0h0m-16 1h0m3 0h0m-4 1h0m9 0h0m2 0h0m-1 1h0m2 0h0m-13 1h0m24 0h0m-13 1h0m13 1h0m-17 2h0m2 1h0m-3 1h0m17 0h0m2 0h0m-6 3h0" stroke="#d8d0d8" stroke-width="1.9" stroke-linecap="square"/>
<path d="M731 162h0m11 1h0m2 0h0m1 0h0m-38 1h0m6 0h0m10 0h0m4 0h0m7 0h0m10 0h0m-30 1h0m32 0h0m8 0h0m-54 2h0m5 1h0m-13 1h0m21 0h0m13 0h0m20 0h0m-53 1h0m15 0h0m8 0h0m22 0h0m-24 1h0m7 0h0m2 1h0m31 0h0m-60 1h0m1 0h0m44 0h0m-41 1h0m38 0h0m12 0h0m4 0h0m-58 1h0m3 0h0m13 1h0m5 1h0m7 0h0m6 0h0m-28 1h0m12 0h0m19 0h0m13 0h0m2 0h0m1 0h0m1 0h0m-52 1h0m36 0h0m-6 1h0m18 0h0m-45 1h0m3 1h0m6 0h0m30 0h0m21 0h0m-65 1h0m41 0h0m2 0h0m-10 1h0m1 0h0m6 0h0m3 0h0m-27 1h0m11 0h0m12 0h0m15 0h0m-39 1h0m17 0h0m8 0h0m-14 1h0m11 0h0m12 0h0m15 0h0m-64 1h0m3 0h0m38 0h0m14 0h0m1 0h0m4 0h0m-47 1h0m25 0h0m5 1h0m9 0h0m-30 1h0m18 0h0m13 0h0m-20 1h0m-14 1h0m11 1h0m8 1h0m10 0h0m-12 1h0m2 0h0m6 0h0m2 0h0m8 0h0m-33 1h0m24 0h0m-16 1h0m16 0h0m-3 1h0m4 0h0m-18 2h0m12 0h0m5 0h0m-22 2h0m3 0h0m-1 1h0m2 0h0m14 0h0m13 0h0m-17 4h0m-6 2h0m4 1h0m-3 1h0m14 0h0m2 2h0m2 2h0" stroke="#b0b870" stroke-width="1.9" stroke-linecap="square"/>
<path d="M755 162h0m-42 1h0m7 0h0m11 0h0m12 0h0m3 0h0m5 0h0m-22 1h0m-10 1h0m8 1h0m15 1h0m12 0h0m-2 1h0m1 0h0m-58 1h0m44 0h0m12 0h0m-42 1h0m43 0h0m-56 1h0m15 0h0m15 0h0m-3 1h0m24 0h0m-27 2h0m15 0h0m-39 1h0m19 0h0m12 0h0m8 0h0m-32 1h0m5 0h0m12 0h0m-14 1h0m4 0h0m2 0h0m22 0h0m13 0h0m-44 1h0m10 0h0m8 0h0m14 0h0m12 0h0m1 0h0m-54 2h0m6 1h0m40 0h0m-13 1h0m1 0h0m28 0h0m-37 1h0m27 0h0m2 0h0m7 0h0m-3 1h0m-50 1h0m5 0h0m48 0h0m1 0h0m-45 1h0m11 1h0m31 0h0m-52 1h0m23 1h0m30 0h0m-27 1h0m-17 1h0m5 0h0m8 0h0m-11 1h0m8 0h0m8 0h0m2 1h0m9 0h0m-19 1h0m5 0h0m2 0h0m9 0h0m1 0h0m-11 1h0m23 0h0m-43 1h0m2 0h0m20 0h0m2 0h0m10 1h0m7 1h0m-18 1h0m4 0h0m3 0h0m7 0h0m-21 1h0m12 0h0m15 0h0m-18 2h0m-10 1h0m21 0h0m-12 1h0m7 0h0m-14 2h0m2 0h0m16 1h0m3 1h0m-21 1h0m7 1h0m2 1h0m7 1h0m-8 1h0m8 0h0m3 0h0m-9 2h0m3 0h0" stroke="#8a7a50" stroke-width="1.9" stroke-linecap="square"/>
<path d="M730 161h0m-5 1h0m9 0h0m-17 1h0m15 0h0m-20 2h0m18 0h0m5 0h0m4 0h0m-29 1h0m35 0h0m6 0h0m-46 1h0m1 0h0m48 0h0m-5 1h0m-56 1h0m22 1h0m8 0h0m-20 2h0m2 0h0m12 0h0m18 0h0m17 0h0m-52 2h0m3 0h0m5 0h0m3 0h0m15 0h0m4 0h0m-6 1h0m34 0h0m-55 1h0m47 0h0m-16 1h0m17 0h0m-55 1h0m12 0h0m30 0h0m-29 1h0m4 0h0m-13 1h0m1 1h0m1 1h0m48 0h0m-42 2h0m1 0h0m20 0h0m9 0h0m-11 1h0m14 0h0m2 0h0m15 0h0m-64 1h0m15 0h0m21 0h0m25 0h0m-2 1h0m-34 1h0m11 0h0m17 0h0m-29 1h0m22 0h0m-35 1h0m20 0h0m4 0h0m10 0h0m-31 1h0m14 0h0m24 0h0m-42 1h0m7 1h0m27 0h0m9 0h0m-26 1h0m26 0h0m3 0h0m-45 1h0m5 0h0m5 0h0m14 0h0m13 0h0m-35 1h0m5 1h0m4 0h0m17 0h0m-14 1h0m1 0h0m13 0h0m-16 1h0m21 0h0m10 0h0m-33 1h0m13 0h0m12 0h0m-14 1h0m5 3h0m-8 2h0m20 0h0m-13 1h0m-5 1h0m4 0h0m4 0h0m-12 1h0m18 0h0m-8 2h0m4 0h0m-9 1h0m0 1h0m11 2h0m6 2h0" stroke="#96a448" stroke-width="1.9" stroke-linecap="square"/>
<path d="M781 160h0m7 0h0m-3 1h0m-9 1h0m2 0h0m6 0h0m4 0h0m7 0h0m-8 1h0m3 0h0m-10 1h0m11 1h0m5 0h0m3 0h0m0 2h0m-14 1h0m1 1h0m-5 1h0m23 1h0m-15 1h0m11 1h0m-1 1h0m-6 1h0m6 0h0m-15 1h0m22 0h0m-28 1h0m2 0h0m3 0h0m5 0h0m5 0h0m13 1h0m-29 1h0m1 0h0m25 0h0m-10 1h0m9 0h0m-23 1h0m6 0h0m16 0h0m1 0h0m-9 2h0m-15 1h0m7 1h0m-5 1h0m3 0h0m-8 1h0m3 2h0m5 0h0m2 2h0m-6 1h0" stroke="#c8c040" stroke-width="1.8" stroke-linecap="square"/>
<path d="M791 160h0m8 0h0m-11 1h0m11 0h0m3 0h0m-21 1h0m2 0h0m1 0h0m3 1h0m11 0h0m2 0h0m-23 2h0m10 0h0m-11 1h0m4 0h0m5 0h0m7 0h0m8 0h0m2 0h0m-21 1h0m5 1h0m4 2h0m4 0h0m-20 1h0m6 0h0m1 0h0m-2 1h0m-2 2h0m3 1h0m5 0h0m2 0h0m14 0h0m5 0h0m-3 2h0m-1 1h0m3 0h0m-30 1h0m4 0h0m16 0h0m5 1h0m3 0h0m-24 1h0m8 0h0m15 0h0m-18 1h0m-6 1h0m9 1h0m3 0h0m-15 1h0m21 0h0m-3 2h0m2 0h0m-12 1h0m-6 1h0m7 0h0m5 0h0m-13 1h0m4 2h0m4 2h0" stroke="#6a7a30" stroke-width="1.8" stroke-linecap="square"/>
<path d="M790 160h0m-10 2h0m1 0h0m7 0h0m2 1h0m-3 1h0m-3 1h0m-7 1h0m5 0h0m-5 1h0m2 0h0m7 2h0m1 1h0m-11 1h0m21 0h0m6 0h0m-21 2h0m1 0h0m14 0h0m-19 1h0m4 0h0m14 1h0m-15 1h0m-2 1h0m5 0h0m7 0h0m10 0h0m-28 2h0m9 0h0m18 0h0m-15 1h0m-8 1h0m3 0h0m1 0h0m12 2h0m-18 1h0m6 1h0m2 1h0m7 0h0m-15 1h0m1 0h0m15 1h0m-7 2h0m-3 1h0m6 0h0m-6 3h0m1 1h0" stroke="#96a448" stroke-width="1.8" stroke-linecap="square"/>
<path d="M797 161h0m6 0h0m-17 1h0m-6 1h0m16 0h0m-13 2h0m4 0h0m11 0h0m4 0h0m3 1h0m-29 1h0m18 0h0m-1 1h0m0 1h0m-17 2h0m5 1h0m10 0h0m-9 2h0m8 0h0m-15 1h0m3 0h0m2 0h0m16 0h0m2 0h0m3 0h0m3 0h0m-17 1h0m4 0h0m8 0h0m-15 1h0m21 0h0m1 0h0m-3 2h0m-15 1h0m-14 4h0m1 0h0m10 1h0m13 0h0m-11 1h0m-7 2h0m14 1h0m-6 3h0m-5 1h0m4 0h0m-5 1h0" stroke="#5a6a28" stroke-width="1.8" stroke-linecap="square"/>
<path d="M783 160h0m20 0h0m-6 1h0m-20 2h0m12 0h0m-10 1h0m1 0h0m13 0h0m7 1h0m2 0h0m-15 1h0m7 0h0m-14 1h0m10 0h0m-6 1h0m18 0h0m-9 3h0m-10 1h0m4 0h0m1 0h0m2 1h0m11 0h0m-10 1h0m-16 1h0m15 0h0m-6 1h0m17 1h0m4 0h0m-6 1h0m-20 2h0m13 0h0m9 0h0m-21 1h0m7 0h0m-9 2h0m2 0h0m-2 1h0m2 0h0m17 1h0m-20 1h0m13 0h0m-2 1h0m3 0h0m-8 1h0m1 0h0m7 3h0" stroke="#a8b060" stroke-width="1.8" stroke-linecap="square"/>
<path d="M790 160h0m-3 1h0m-8 1h0m21 0h0m-10 1h0m11 0h0m-4 1h0m-8 1h0m1 0h0m7 0h0m1 0h0m-14 1h0m4 0h0m15 0h0m-26 1h0m4 0h0m2 0h0m-4 3h0m19 0h0m7 0h0m-15 1h0m6 0h0m-16 1h0m6 0h0m1 1h0m10 0h0m-3 1h0m-17 1h0m1 1h0m19 0h0m-2 2h0m9 0h0m-27 1h0m11 0h0m10 0h0m-24 1h0m10 0h0m0 2h0m-9 2h0m10 0h0m3 0h0m-10 1h0m3 0h0m6 0h0m-10 1h0m3 0h0m3 1h0m5 0h0m2 0h0m-2 1h0m4 0h0m1 2h0m-8 3h0m-4 2h0" stroke="#4a5a28" stroke-width="1.8" stroke-linecap="square"/>
<path d="M789 161h0m4 0h0m-9 1h0m10 0h0m5 0h0m4 0h0m1 0h0m-23 1h0m14 2h0m-17 1h0m5 0h0m-4 1h0m4 0h0m-8 1h0m2 1h0m5 0h0m-1 3h0m9 0h0m3 0h0m-17 2h0m15 0h0m13 0h0m-28 1h0m3 0h0m26 0h0m-6 1h0m-20 1h0m-3 1h0m5 2h0m8 0h0m9 0h0m-23 1h0m11 0h0m6 0h0m0 1h0m-15 1h0m1 0h0m14 0h0m7 0h0m-3 1h0m1 0h0m-12 2h0m13 0h0m-12 1h0m9 0h0m1 0h0m-19 3h0m0 2h0m13 0h0m-11 1h0m2 0h0" stroke="#b0b870" stroke-width="1.8" stroke-linecap="square"/>
<path d="M786 160h0m-4 1h0m4 0h0m7 0h0m-16 1h0m5 1h0m18 0h0m4 0h0m-18 2h0m1 0h0m7 0h0m2 0h0m5 0h0m2 0h0m-21 1h0m-2 1h0m2 0h0m1 1h0m3 0h0m-6 1h0m3 0h0m11 0h0m7 1h0m-27 1h0m3 1h0m22 0h0m-20 1h0m13 0h0m-11 1h0m15 0h0m3 1h0m-18 1h0m21 0h0m3 0h0m-28 1h0m5 1h0m8 0h0m-3 1h0m10 0h0m-24 1h0m5 0h0m6 0h0m8 0h0m-17 3h0m17 0h0m-13 2h0m6 0h0m7 0h0m-6 2h0m8 0h0m-16 2h0m9 3h0m-8 3h0" stroke="#7a8a38" stroke-width="1.8" stroke-linecap="square"/>
<path d="M670 160h0m-4 2h0m1 0h0m-6 1h0m2 0h0m3 0h0m-2 1h0m-13 1h0m2 0h0m6 0h0m1 0h0m-1 1h0m10 1h0m-15 1h0m4 1h0m9 0h0m-12 1h0m18 0h0m-20 1h0m11 0h0m2 0h0m4 0h0m-8 1h0m2 0h0m2 0h0m-13 1h0m1 0h0m7 0h0m3 0h0m2 0h0m7 0h0m-15 1h0m2 0h0m-9 1h0m6 0h0m8 0h0m1 0h0m-20 1h0m7 0h0m1 0h0m-9 1h0m4 0h0m1 0h0m3 0h0m13 1h0m2 0h0m-5 1h0m4 0h0m-17 2h0m1 0h0m8 0h0m-2 1h0m9 50h0m8 0h0m2 4h0m2 1h0m-25 1h0m25 0h0m-3 4h0m7 0h0m-21 1h0m8 0h0m19 3h0m-3 4h0m-16 1h0m13 0h0m6 2h0m-6 7h0m4 0h0m-2 2h0" stroke="#d0c8d8" stroke-width="1.8" stroke-linecap="square"/>
<path d="M661 158h0m-7 5h0m6 0h0m10 0h0m-15 1h0m2 1h0m13 0h0m-15 1h0m6 0h0m4 0h0m-11 1h0m-6 1h0m5 0h0m13 0h0m2 1h0m3 1h0m3 0h0m-27 1h0m18 0h0m-16 1h0m12 0h0m1 0h0m2 0h0m-6 1h0m-11 1h0m13 0h0m-14 1h0m6 0h0m12 0h0m1 1h0m3 0h0m-19 1h0m18 0h0m2 0h0m1 0h0m-9 1h0m1 0h0m1 0h0m-14 1h0m4 0h0m3 0h0m-5 1h0m16 0h0m-4 1h0m-7 1h0m3 0h0m4 0h0m8 56h0m13 1h0m-20 2h0m3 0h0m8 0h0m6 2h0m-15 2h0m20 0h0m-21 1h0m0 2h0m8 0h0m-2 1h0m9 1h0m16 1h0m-17 2h0m16 0h0m-19 5h0m16 1h0m0 1h0m0 7h0" stroke="#9890a8" stroke-width="1.8" stroke-linecap="square"/>
<path d="M665 158h0m1 0h0m2 1h0m-2 1h0m-11 1h0m2 0h0m-2 1h0m2 0h0m1 0h0m2 0h0m4 0h0m2 0h0m-7 1h0m3 0h0m1 0h0m2 0h0m-13 1h0m10 0h0m8 0h0m-20 2h0m11 0h0m1 0h0m1 0h0m1 0h0m-10 1h0m5 0h0m7 1h0m7 0h0m-17 1h0m2 0h0m5 0h0m1 0h0m7 0h0m-22 1h0m15 0h0m1 0h0m1 0h0m3 0h0m2 0h0m1 0h0m-20 1h0m4 0h0m3 0h0m-8 1h0m19 0h0m2 0h0m-20 1h0m3 0h0m2 0h0m2 0h0m-6 1h0m7 0h0m-6 1h0m4 0h0m5 0h0m-10 1h0m-8 1h0m1 0h0m24 0h0m-23 1h0m0 1h0m11 1h0m8 0h0m1 0h0m-10 1h0m0 1h0m5 0h0m10 47h0m-2 1h0m2 1h0m2 2h0m-13 4h0m4 1h0m10 1h0m-18 1h0m-2 1h0m9 3h0m25 0h0m-16 1h0m6 0h0m0 1h0m-5 1h0m14 2h0m1 1h0m-18 1h0m10 2h0m-9 2h0m4 1h0m12 3h0m1 2h0m-2 3h0" stroke="#ffffff" stroke-width="1.8" stroke-linecap="square"/>
<path d="M667 157h0m-4 5h0m7 0h0m1 0h0m-16 1h0m3 0h0m-3 1h0m1 0h0m14 0h0m-17 1h0m6 0h0m3 0h0m-5 1h0m-9 1h0m13 0h0m11 0h0m-7 1h0m-17 1h0m11 0h0m6 0h0m-13 1h0m4 1h0m9 0h0m-14 1h0m12 0h0m-16 1h0m17 0h0m-8 2h0m10 0h0m-19 1h0m25 0h0m-14 2h0m-13 1h0m6 0h0m0 1h0m3 0h0m4 0h0" stroke="#807060" stroke-width="1.8" stroke-linecap="square"/>
<path d="M661 159h0m-6 4h0m8 0h0m8 0h0m-20 1h0m5 0h0m3 0h0m14 0h0m-6 1h0m-15 1h0m2 0h0m1 0h0m18 0h0m-24 1h0m4 0h0m5 1h0m11 0h0m4 0h0m-24 2h0m7 0h0m3 0h0m5 0h0m2 0h0m-20 1h0m17 0h0m3 0h0m7 0h0m-18 2h0m1 0h0m4 0h0m4 0h0m2 1h0m5 0h0m-25 1h0m4 0h0m9 0h0m-6 1h0m10 0h0m-14 1h0m3 0h0m6 1h0m-11 1h0m1 0h0m11 0h0m-12 1h0m1 0h0m12 0h0m-4 1h0m-2 1h0m9 0h0m8 47h0m-2 4h0m8 0h0m-19 3h0m6 1h0m-11 2h0m10 0h0m-1 1h0m15 2h0m5 1h0m-11 4h0m3 2h0m16 0h0m2 0h0m-5 6h0m-3 1h0m-2 4h0m12 2h0m-2 3h0" stroke="#f4f0f0" stroke-width="1.8" stroke-linecap="square"/>
<path d="M665 157h0m3 3h0m-10 1h0m6 0h0m-3 1h0m2 0h0m4 0h0m0 2h0m-17 1h0m17 0h0m2 0h0m-20 1h0m6 0h0m8 0h0m-5 1h0m-2 1h0m1 0h0m-10 2h0m19 0h0m-16 1h0m9 0h0m-12 1h0m5 1h0m13 1h0m-16 1h0m5 0h0m14 0h0m-21 1h0m16 0h0m4 0h0m1 0h0m2 0h0m-9 1h0m5 0h0m3 1h0m-22 2h0m7 0h0m1 0h0m-3 1h0m2 0h0m3 1h0m7 0h0m1 0h0m-2 1h0m1 49h0m3 1h0m4 0h0m-7 1h0m-6 2h0m11 0h0m-6 1h0m-6 2h0m18 0h0m-8 1h0m-4 1h0m9 0h0m2 0h0m-7 5h0m2 0h0m18 0h0m-10 1h0m-11 1h0m9 0h0m15 4h0m-7 1h0m7 0h0m1 6h0m-9 2h0m4 2h0" stroke="#b8b0c8" stroke-width="1.8" stroke-linecap="square"/>
<path d="M660 161h0m7 0h0m-10 1h0m3 1h0m3 0h0m4 0h0m-13 2h0m15 0h0m-16 1h0m17 0h0m-16 1h0m11 0h0m-15 1h0m19 0h0m2 0h0m-19 1h0m14 3h0m-14 1h0m17 0h0m2 0h0m-25 1h0m13 0h0m4 0h0m7 0h0m1 0h0m1 0h0m-21 1h0m-6 1h0m23 0h0m4 0h0m-12 1h0m8 0h0m-22 1h0m7 0h0m12 0h0m-12 1h0m7 0h0m4 0h0m5 0h0m-20 1h0m1 0h0m8 1h0m3 0h0m3 0h0m-5 1h0m3 0h0m1 0h0m2 1h0" stroke="#c8c0b8" stroke-width="1.8" stroke-linecap="square"/>
<path d="M664 158h0m-9 3h0m12 0h0m-11 2h0m11 0h0m-13 1h0m1 0h0m4 0h0m11 0h0m2 0h0m-13 1h0m11 0h0m-14 1h0m3 0h0m2 0h0m11 0h0m1 0h0m-12 1h0m2 0h0m2 0h0m5 0h0m3 0h0m-17 2h0m4 0h0m8 0h0m4 0h0m-26 2h0m2 0h0m11 1h0m1 0h0m9 0h0m-23 1h0m2 1h0m21 0h0m-7 1h0m10 0h0m-27 1h0m1 0h0m11 0h0m4 0h0m2 1h0m3 0h0m-1 1h0m-4 1h0m6 0h0m-16 1h0m10 0h0m2 0h0m3 0h0m-16 1h0m15 0h0m-10 1h0m1 0h0m9 1h0m0 49h0m8 0h0m-1 4h0m-19 1h0m29 1h0m-29 1h0m8 2h0m18 0h0m-1 1h0m2 4h0m-1 1h0m9 1h0m-15 2h0m20 5h0m-18 2h0m8 0h0m1 1h0m8 3h0m-3 1h0" stroke="#e8e4ec" stroke-width="1.8" stroke-linecap="square"/>
<path d="M851 122h0m-2 1h0m3 3h0m7 0h0m-26 1h0m1 0h0m7 0h0m-23 1h0m13 0h0m24 0h0m2 0h0m-23 1h0m21 0h0m-36 1h0m2 0h0m24 0h0m14 0h0m-39 1h0m4 0h0m12 0h0m8 0h0m7 0h0m-37 1h0m4 0h0m23 0h0m2 0h0m-27 1h0m18 0h0m6 0h0m13 0h0m-50 1h0m17 0h0m4 0h0m27 0h0m6 0h0m8 0h0m-49 1h0m8 0h0m24 0h0m-34 1h0m17 0h0m-26 1h0m41 0h0m1 0h0m6 0h0m1 0h0m3 0h0m-26 1h0m27 0h0m-50 1h0m2 0h0m15 0h0m29 0h0m-15 1h0m7 0h0m13 0h0m4 0h0m-57 1h0m30 0h0m4 0h0m4 1h0m7 0h0m5 0h0m-48 1h0m9 0h0m11 0h0m14 0h0m-68 1h0m5 0h0m40 0h0m10 0h0m7 0h0m2 0h0m-57 1h0m47 0h0m13 0h0m13 0h0m-87 1h0m8 0h0m35 0h0m5 0h0m10 0h0m20 0h0m4 0h0m5 0h0m-85 1h0m1 0h0m12 0h0m34 0h0m22 0h0m3 0h0m4 0h0m6 0h0m2 0h0m7 0h0m-97 1h0m12 0h0m2 0h0m8 0h0m26 0h0m7 0h0m2 0h0m-58 1h0m55 0h0m16 0h0m16 0h0m15 0h0m-51 1h0m5 0h0m38 0h0m4 0h0m-86 1h0m3 0h0m15 0h0m31 0h0m9 0h0m17 0h0m-77 1h0m11 0h0m39 0h0m1 0h0m25 0h0m15 0h0m-78 1h0m33 0h0m8 0h0m9 0h0m6 0h0m11 0h0m-64 1h0m29 0h0m6 0h0m39 0h0m-100 1h0m2 0h0m3 0h0m13 0h0m3 0h0m35 0h0m2 0h0m22 0h0m-71 1h0m15 0h0m42 0h0m17 0h0m-84 1h0m63 0h0m2 0h0m-63 1h0m2 0h0m2 0h0m69 0h0m29 0h0m-104 1h0m1 0h0m2 0h0m18 0h0m3 0h0m4 0h0m-13 1h0m3 0h0m3 0h0m7 0h0m3 0h0m58 0h0m-77 1h0m9 0h0m10 0h0m58 0h0m-92 1h0m25 0h0m5 0h0m63 0h0m-93 1h0m91 0h0m-77 1h0m6 0h0m74 0h0m-86 2h0m24 0h0m70 0h0m-91 1h0m86 0h0m-79 1h0m-16 1h0m5 0h0m12 0h0m7 0h0m-21 1h0m19 0h0m2 1h0m1 0h0m-22 1h0m6 0h0m1 0h0m4 0h0m9 0h0m-16 2h0m2 0h0m11 0h0m5 0h0m-15 1h0m5 0h0m1 0h0m-8 1h0m12 0h0" stroke="#605870" stroke-width="1.9" stroke-linecap="square"/>
<path d="M854 123h0m2 1h0m4 0h0m2 1h0m-27 3h0m21 0h0m-13 1h0m3 0h0m4 0h0m-32 1h0m17 0h0m13 0h0m13 0h0m-24 1h0m25 0h0m-40 1h0m6 0h0m26 0h0m-42 1h0m4 0h0m5 0h0m4 0h0m14 0h0m-25 1h0m12 0h0m25 0h0m14 0h0m-60 1h0m5 0h0m6 0h0m24 0h0m15 0h0m5 0h0m-12 1h0m-35 1h0m9 0h0m7 0h0m19 1h0m11 0h0m-4 1h0m2 0h0m8 0h0m-22 1h0m17 0h0m-40 1h0m16 0h0m10 0h0m12 0h0m-46 1h0m6 0h0m5 0h0m6 0h0m4 0h0m-28 1h0m8 0h0m12 0h0m5 0h0m8 0h0m7 0h0m4 0h0m8 0h0m-85 1h0m54 0h0m11 0h0m5 0h0m2 0h0m10 0h0m4 0h0m3 0h0m-90 1h0m6 0h0m7 0h0m30 0h0m1 0h0m11 0h0m14 0h0m22 0h0m-92 1h0m53 0h0m28 0h0m3 0h0m-76 1h0m63 0h0m1 0h0m8 0h0m-83 1h0m18 0h0m2 0h0m1 0h0m53 0h0m7 0h0m-85 1h0m1 0h0m9 0h0m48 0h0m2 0h0m13 0h0m21 0h0m3 0h0m-99 1h0m21 0h0m6 0h0m3 0h0m1 0h0m35 0h0m3 0h0m1 0h0m1 0h0m5 0h0m13 0h0m-72 1h0m48 0h0m9 0h0m11 0h0m2 0h0m9 0h0m-99 1h0m89 0h0m-88 1h0m9 0h0m45 0h0m11 0h0m-60 1h0m1 0h0m5 0h0m11 0h0m44 0h0m36 0h0m-102 1h0m3 0h0m10 0h0m2 0h0m4 0h0m2 0h0m2 0h0m34 0h0m2 0h0m18 0h0m23 0h0m-101 1h0m3 0h0m25 0h0m31 0h0m15 0h0m18 0h0m1 0h0m13 0h0m-73 1h0m2 0h0m-19 1h0m3 0h0m10 0h0m5 0h0m38 0h0m3 0h0m27 0h0m-103 1h0m14 0h0m4 0h0m1 0h0m7 0h0m4 0h0m72 0h0m4 0h0m-88 1h0m12 0h0m3 0h0m54 0h0m-68 1h0m8 0h0m68 0h0m-75 1h0m1 0h0m5 0h0m6 0h0m62 0h0m13 0h0m-98 1h0m3 1h0m10 0h0m4 0h0m68 1h0m10 0h0m-97 1h0m6 0h0m11 0h0m66 0h0m-85 1h0m7 0h0m7 0h0m1 0h0m4 0h0m2 0h0m1 0h0m-24 2h0m22 0h0m4 0h0m2 1h0m-9 1h0m74 0h0m-71 1h0m-15 1h0m11 2h0m-8 1h0m-3 1h0m4 0h0m1 0h0" stroke="#a8a4c0" stroke-width="1.9" stroke-linecap="square"/>
<path d="M855 120h0m4 0h0m-6 1h0m4 1h0m-5 1h0m2 0h0m2 0h0m5 2h0m-35 2h0m29 0h0m-29 1h0m35 0h0m-40 1h0m8 1h0m22 0h0m-6 1h0m4 0h0m6 0h0m-28 1h0m13 0h0m3 0h0m5 0h0m-35 1h0m8 0h0m3 0h0m26 0h0m4 0h0m-30 1h0m22 0h0m14 0h0m-30 1h0m3 0h0m14 0h0m8 0h0m-32 1h0m6 0h0m17 0h0m-30 1h0m14 0h0m19 0h0m2 0h0m11 0h0m-35 1h0m7 0h0m21 0h0m-38 1h0m2 0h0m10 0h0m1 0h0m14 0h0m5 0h0m-30 1h0m9 0h0m20 0h0m-32 1h0m10 0h0m11 0h0m13 1h0m1 0h0m6 1h0m-49 1h0m25 0h0m2 0h0m11 0h0m-66 1h0m4 0h0m65 0h0m5 0h0m-66 1h0m62 0h0m13 0h0m-84 1h0m37 0h0m2 0h0m4 0h0m2 0h0m18 0h0m11 0h0m-2 1h0m2 0h0m2 0h0m3 0h0m1 0h0m1 0h0m-98 1h0m3 0h0m23 0h0m54 0h0m7 0h0m2 0h0m12 0h0m-88 1h0m9 0h0m37 0h0m5 0h0m16 0h0m16 0h0m5 0h0m-101 1h0m3 0h0m13 0h0m44 0h0m2 0h0m8 0h0m16 0h0m4 0h0m-95 1h0m5 0h0m24 0h0m7 0h0m46 0h0m-79 1h0m11 0h0m1 0h0m8 0h0m41 0h0m-57 1h0m16 0h0m4 0h0m32 0h0m16 0h0m3 0h0m11 0h0m17 0h0m-94 1h0m15 0h0m5 0h0m57 0h0m4 0h0m3 0h0m-87 1h0m4 0h0m5 0h0m16 0h0m52 0h0m-73 1h0m6 0h0m5 0h0m8 0h0m1 0h0m47 0h0m4 0h0m-78 1h0m9 0h0m13 0h0m-20 1h0m2 0h0m3 0h0m3 0h0m74 0h0m7 0h0m-85 1h0m3 1h0m8 0h0m3 0h0m-19 1h0m28 0h0m53 0h0m-68 1h0m4 0h0m77 0h0m-92 1h0m21 0h0m-6 1h0m1 0h0m5 0h0m-24 1h0m5 0h0m10 0h0m1 0h0m70 0h0m-68 1h0m1 0h0m5 0h0m2 0h0m59 0h0m-79 1h0m19 0h0m-21 1h0m12 0h0m-12 2h0m-1 1h0m10 0h0m-5 1h0m3 0h0m10 0h0m-7 1h0m-1 1h0m5 1h0m2 0h0m-9 1h0" stroke="#c8c4d8" stroke-width="1.9" stroke-linecap="square"/>
<path d="M851 120h0m-2 1h0m6 1h0m3 0h0m0 2h0m-36 3h0m4 0h0m1 0h0m1 0h0m2 0h0m6 0h0m7 0h0m8 0h0m5 0h0m-33 1h0m4 0h0m11 0h0m24 0h0m-13 1h0m-36 1h0m17 0h0m1 0h0m13 0h0m-19 2h0m1 0h0m22 0h0m-39 1h0m45 0h0m-49 1h0m5 0h0m4 0h0m6 0h0m1 0h0m12 0h0m8 0h0m17 0h0m-54 1h0m6 0h0m7 0h0m7 0h0m29 0h0m8 0h0m-57 1h0m3 0h0m8 0h0m20 0h0m18 0h0m8 0h0m-13 1h0m-39 1h0m7 0h0m10 0h0m23 0h0m4 0h0m6 0h0m-16 1h0m-35 1h0m19 0h0m4 0h0m14 0h0m-12 1h0m4 0h0m15 0h0m1 0h0m6 0h0m-54 1h0m18 0h0m-42 1h0m48 0h0m17 0h0m11 0h0m-79 1h0m31 0h0m19 0h0m16 0h0m-72 1h0m10 0h0m4 0h0m22 0h0m5 0h0m9 0h0m4 0h0m19 0h0m4 0h0m-82 1h0m8 0h0m11 0h0m23 0h0m10 0h0m13 0h0m10 0h0m9 0h0m-75 1h0m4 0h0m29 0h0m4 0h0m39 0h0m-82 1h0m7 0h0m1 0h0m34 0h0m1 0h0m19 0h0m12 0h0m16 0h0m4 0h0m-83 1h0m39 0h0m3 0h0m1 0h0m21 0h0m-81 1h0m46 0h0m7 0h0m7 0h0m31 0h0m-93 1h0m4 0h0m2 0h0m1 0h0m19 0h0m5 0h0m20 0h0m5 0h0m4 0h0m13 0h0m1 0h0m5 0h0m5 0h0m5 0h0m13 0h0m-90 1h0m11 0h0m28 0h0m28 0h0m2 0h0m5 0h0m15 0h0m-77 1h0m2 0h0m4 0h0m29 0h0m-53 1h0m10 0h0m3 0h0m5 0h0m4 0h0m43 0h0m5 0h0m16 0h0m-80 1h0m7 0h0m6 0h0m2 0h0m1 0h0m24 0h0m9 0h0m18 0h0m3 0h0m20 0h0m-100 1h0m13 0h0m12 0h0m2 0h0m39 0h0m-70 1h0m2 0h0m2 0h0m3 0h0m3 0h0m2 0h0m16 0h0m34 0h0m4 0h0m16 0h0m12 0h0m-77 1h0m2 0h0m50 0h0m4 0h0m10 0h0m-81 1h0m15 0h0m2 0h0m11 0h0m47 0h0m8 0h0m11 0h0m-92 1h0m88 0h0m14 0h0m-102 1h0m9 0h0m11 1h0m-16 1h0m2 0h0m2 0h0m1 0h0m76 0h0m-80 1h0m4 0h0m4 0h0m-18 1h0m20 0h0m2 0h0m4 0h0m4 0h0m-30 1h0m6 0h0m9 0h0m2 0h0m2 0h0m4 0h0m68 0h0m3 0h0m-89 1h0m17 0h0m7 0h0m-16 1h0m4 0h0m4 0h0m1 0h0m6 0h0m65 0h0m-79 1h0m2 0h0m-10 1h0m22 0h0m64 0h0m4 0h0m-88 1h0m6 0h0m1 0h0m11 0h0m1 0h0m-23 1h0m2 1h0m6 0h0m11 0h0m-9 2h0m7 0h0m-10 1h0m6 0h0m7 0h0m-6 1h0m3 0h0m1 1h0" stroke="#8a86a0" stroke-width="1.9" stroke-linecap="square"/>
<path d="M856 123h0m4 0h0m-10 3h0m8 0h0m-23 1h0m-1 1h0m4 0h0m7 1h0m1 0h0m1 0h0m1 0h0m-29 1h0m29 0h0m0 1h0m-33 1h0m6 0h0m3 0h0m18 0h0m12 0h0m-3 1h0m-43 1h0m8 0h0m14 0h0m21 0h0m-48 1h0m20 0h0m1 0h0m28 0h0m9 0h0m-51 1h0m4 0h0m15 0h0m25 0h0m4 0h0m-34 1h0m11 0h0m15 0h0m6 0h0m5 0h0m3 0h0m-53 1h0m16 0h0m18 0h0m9 0h0m-47 1h0m4 0h0m40 0h0m-45 1h0m15 0h0m17 0h0m6 0h0m19 0h0m-44 1h0m18 0h0m9 0h0m4 0h0m3 0h0m-41 1h0m1 0h0m3 0h0m5 0h0m32 1h0m-30 1h0m2 0h0m-14 1h0m18 0h0m24 0h0m-79 1h0m69 0h0m1 0h0m4 0h0m-83 1h0m16 0h0m32 0h0m-41 1h0m16 0h0m34 0h0m5 0h0m32 0h0m1 0h0m-82 1h0m11 0h0m46 0h0m11 0h0m6 0h0m-88 1h0m10 0h0m14 0h0m6 0h0m20 0h0m10 0h0m5 0h0m9 0h0m6 0h0m18 0h0m-85 1h0m10 0h0m24 0h0m5 0h0m13 0h0m5 0h0m7 0h0m3 0h0m2 0h0m7 0h0m10 0h0m-87 1h0m2 0h0m3 0h0m34 0h0m14 0h0m12 0h0m6 0h0m-78 1h0m16 0h0m50 0h0m11 0h0m1 0h0m1 0h0m2 0h0m11 0h0m-100 1h0m16 0h0m7 0h0m42 0h0m38 0h0m-88 1h0m5 0h0m1 0h0m2 0h0m8 0h0m35 0h0m5 0h0m10 0h0m1 0h0m2 0h0m10 0h0m-96 1h0m5 0h0m90 0h0m-70 1h0m39 0h0m18 0h0m18 0h0m-102 1h0m4 0h0m3 0h0m18 0h0m5 0h0m76 0h0m-93 1h0m12 0h0m-24 1h0m7 0h0m6 0h0m3 0h0m8 0h0m3 0h0m8 0h0m-12 1h0m-12 1h0m14 0h0m7 0h0m1 0h0m69 0h0m-99 1h0m5 0h0m1 0h0m83 0h0m4 0h0m-97 1h0m21 0h0m5 0h0m5 0h0m3 0h0m62 0h0m5 0h0m-91 1h0m4 0h0m12 0h0m7 0h0m63 0h0m-80 1h0m7 0h0m10 0h0m58 0h0m6 0h0m-89 1h0m-7 1h0m12 0h0m3 0h0m8 0h0m4 0h0m72 0h0m-94 1h0m4 0h0m10 0h0m11 0h0m69 0h0m-95 1h0m8 0h0m0 1h0m-5 2h0m4 1h0m4 0h0m2 1h0m-1 1h0m2 0h0m-1 1h0" stroke="#e0dce8" stroke-width="1.9" stroke-linecap="square"/>
<path d="M856 123h0m0 2h0m-29 2h0m10 0h0m18 0h0m7 0h0m-7 1h0m-34 1h0m2 0h0m17 0h0m-17 1h0m13 0h0m-24 1h0m16 0h0m24 0h0m3 0h0m-3 1h0m-2 1h0m10 0h0m2 0h0m-45 1h0m12 0h0m18 0h0m2 0h0m4 0h0m6 0h0m-34 1h0m22 0h0m7 0h0m-49 1h0m14 0h0m15 0h0m12 0h0m1 0h0m11 0h0m4 0h0m-56 1h0m17 0h0m4 0h0m9 0h0m10 0h0m2 0h0m2 0h0m4 1h0m-44 1h0m3 0h0m25 0h0m7 0h0m9 0h0m1 0h0m2 0h0m-14 1h0m7 0h0m1 0h0m-23 1h0m17 0h0m17 0h0m-43 1h0m8 0h0m17 0h0m-37 1h0m1 0h0m2 0h0m5 0h0m6 0h0m8 0h0m16 0h0m-25 1h0m5 0h0m20 0h0m1 0h0m15 0h0m-18 1h0m-67 1h0m9 0h0m2 0h0m40 0h0m1 0h0m9 0h0m1 0h0m20 0h0m-89 1h0m5 0h0m73 0h0m-37 1h0m5 0h0m11 0h0m14 0h0m11 0h0m13 0h0m-42 1h0m4 0h0m8 0h0m6 0h0m8 0h0m4 0h0m3 0h0m-93 1h0m70 0h0m10 0h0m4 0h0m1 0h0m-80 1h0m4 0h0m3 0h0m13 0h0m57 0h0m1 0h0m10 0h0m-74 1h0m32 0h0m14 0h0m-36 1h0m2 0h0m28 0h0m28 0h0m3 0h0m2 0h0m3 0h0m-99 1h0m2 0h0m70 0h0m14 0h0m17 0h0m-92 1h0m6 0h0m5 0h0m13 0h0m21 0h0m15 0h0m6 0h0m8 0h0m1 0h0m1 0h0m10 0h0m-79 1h0m61 0h0m5 0h0m6 0h0m-75 1h0m50 0h0m16 0h0m23 0h0m-88 1h0m52 0h0m-62 1h0m1 0h0m15 0h0m53 0h0m24 0h0m3 0h0m-88 1h0m78 0h0m1 0h0m-94 1h0m21 0h0m3 0h0m3 0h0m7 0h0m53 0h0m-86 1h0m1 0h0m25 0h0m-25 1h0m19 0h0m75 0h0m-89 1h0m11 0h0m3 0h0m9 0h0m-21 1h0m11 0h0m7 0h0m68 0h0m-89 1h0m4 0h0m4 0h0m2 0h0m14 0h0m-19 1h0m20 0h0m1 0h0m-23 1h0m1 0h0m16 0h0m-22 1h0m15 0h0m1 0h0m3 0h0m5 0h0m1 0h0m62 0h0m-70 1h0m2 0h0m-1 1h0m71 0h0m-81 1h0m4 0h0m2 0h0m7 0h0m-17 1h0m10 1h0m5 0h0m-11 1h0m8 0h0m-4 2h0m7 0h0" stroke="#b8b4cc" stroke-width="1.9" stroke-linecap="square"/>
<path d="M755 179h0m5 0h0m-11 3h0m11 1h0m-7 1h0m2 0h0m-5 1h0m2 0h0m13 1h0m-12 1h0m3 1h0m-6 3h0m7 0h0m-5 1h0m14 0h0m-3 1h0m-15 2h0m-5 1h0m10 0h0m8 0h0m8 2h0m-24 1h0m9 0h0m12 0h0m-3 1h0m-14 1h0m2 0h0m18 0h0m-2 1h0m-15 1h0m5 0h0m10 1h0m-10 1h0m1 1h0m5 1h0m-12 1h0m0 1h0m3 0h0m5 0h0m-9 1h0m6 0h0m6 1h0m4 0h0m-5 1h0m-5 3h0m5 1h0m4 0h0m1 0h0m-3 2h0" stroke="#a8a4c0" stroke-width="1.8" stroke-linecap="square"/>
<path d="M757 178h0m-5 2h0m1 0h0m5 0h0m3 1h0m-9 1h0m10 1h0m-1 1h0m-2 1h0m-2 1h0m-11 1h0m8 0h0m1 1h0m2 0h0m-11 1h0m21 1h0m-10 1h0m-7 1h0m-5 1h0m-2 1h0m5 0h0m15 0h0m4 1h0m-18 1h0m-6 1h0m18 0h0m-14 1h0m5 0h0m-5 1h0m10 1h0m-2 1h0m7 0h0m-8 1h0m3 0h0m10 0h0m-20 1h0m22 1h0m-14 1h0m9 0h0m4 0h0m-6 1h0m-13 1h0m7 0h0m3 0h0m2 0h0m3 1h0m-15 1h0m10 0h0m9 0h0m-3 1h0m-9 1h0m9 0h0m1 0h0m-13 2h0m5 2h0m8 1h0" stroke="#b8b4cc" stroke-width="1.8" stroke-linecap="square"/>
<path d="M758 181h0m1 1h0m-12 1h0m15 0h0m2 1h0m-4 2h0m5 0h0m0 1h0m-19 2h0m15 0h0m-5 3h0m-2 1h0m5 0h0m3 0h0m1 1h0m3 0h0m-20 1h0m3 0h0m-3 1h0m17 0h0m-18 1h0m20 0h0m-2 1h0m2 0h0m-18 2h0m17 0h0m-16 1h0m4 0h0m9 1h0m-11 3h0m2 0h0m7 0h0m10 0h0m-19 1h0m16 2h0m-7 1h0m4 0h0m2 1h0m3 0h0m-4 2h0m-7 2h0m-1 1h0m4 1h0m4 1h0m-3 1h0m3 0h0m-2 1h0" stroke="#c8c4d8" stroke-width="1.8" stroke-linecap="square"/>
<path d="M759 179h0m-3 1h0m6 1h0m-11 2h0m-2 1h0m3 0h0m-4 1h0m14 0h0m3 0h0m-20 2h0m7 1h0m-6 2h0m17 0h0m3 0h0m-22 2h0m8 0h0m10 0h0m-4 2h0m-8 1h0m3 1h0m5 0h0m-8 1h0m1 0h0m7 0h0m-10 2h0m7 0h0m1 1h0m10 2h0m-2 1h0m-14 1h0m12 0h0m-8 3h0m8 1h0m-11 1h0m16 0h0m-7 1h0m-7 1h0m15 0h0m-15 2h0m10 6h0" stroke="#8a86a0" stroke-width="1.8" stroke-linecap="square"/>
<path d="M753 178h0m9 5h0m-6 1h0m-10 3h0m3 0h0m-3 1h0m-2 1h0m7 1h0m12 0h0m2 0h0m-12 1h0m3 0h0m-11 1h0m21 2h0m-7 1h0m2 0h0m-13 1h0m20 0h0m-25 2h0m2 0h0m9 0h0m-7 1h0m5 0h0m3 0h0m10 0h0m-10 1h0m14 0h0m-14 1h0m11 0h0m-11 1h0m3 0h0m-5 2h0m4 0h0m10 0h0m-11 2h0m3 0h0m8 1h0m-15 1h0m6 4h0m4 0h0m-5 2h0m9 1h0m-8 2h0m3 2h0" stroke="#e0dce8" stroke-width="1.8" stroke-linecap="square"/>
<path d="M752 180h0m3 4h0m9 0h0m-14 4h0m10 0h0m4 1h0m-12 1h0m14 0h0m-22 1h0m6 2h0m13 1h0m-2 1h0m-12 1h0m1 0h0m16 0h0m-4 2h0m1 0h0m3 2h0m-7 2h0m-12 1h0m21 0h0m-23 1h0m3 1h0m18 2h0m1 0h0m-7 1h0m-5 2h0m15 0h0m-11 1h0m3 0h0m-6 1h0m-3 1h0m2 0h0m7 0h0m-4 3h0m1 0h0m6 2h0" stroke="#605870" stroke-width="1.8" stroke-linecap="square"/>
<path d="M728 172h0m-8 1h0m4 0h0m1 0h0m-5 3h0m10 2h0m-11 2h0" stroke="#a8a4c0" stroke-width="1.5" stroke-linecap="square"/>
<path d="M717 173h0m0 1h0m6 0h0m1 0h0m-1 1h0m2 3h0m-4 1h0m3 0h0m-4 2h0" stroke="#e0dce8" stroke-width="1.5" stroke-linecap="square"/>
<path d="M721 173h0m7 0h0m-4 2h0m-2 2h0m-1 1h0m7 1h0m1 1h0m-8 1h0" stroke="#c8c4d8" stroke-width="1.5" stroke-linecap="square"/>
<path d="M719 171h0m3 1h0m8 3h0m-12 1h0m5 1h0m2 0h0" stroke="#8a86a0" stroke-width="1.5" stroke-linecap="square"/>
<path d="M727 172h0m-9 1h0m6 0h0m-4 2h0m-2 3h0m8 2h0" stroke="#605870" stroke-width="1.5" stroke-linecap="square"/>
<path d="M719 175h0m9 0h0m-1 4h0" stroke="#b8b4cc" stroke-width="1.5" stroke-linecap="square"/>
<path d="M840 127h0m3 2h0m-29 1h0m27 0h0m7 0h0m-37 1h0m34 0h0m-26 2h0m26 0h0m1 0h0m2 0h0m-42 1h0m12 0h0m16 0h0m12 0h0m-13 1h0m-26 1h0m4 0h0m6 0h0m28 0h0m-40 1h0m2 0h0m10 0h0m28 0h0m-25 1h0m9 0h0m20 1h0m5 0h0m-17 1h0m-13 1h0m-16 1h0m6 0h0m21 0h0m9 0h0m-27 1h0m6 0h0m11 0h0m11 0h0m-39 1h0m3 0h0m28 0h0m18 0h0m-45 1h0m3 0h0m17 0h0m7 0h0m10 0h0m-15 1h0m21 0h0m-25 1h0m4 0h0m-5 1h0m-16 1h0m11 0h0m16 0h0m7 0h0m1 1h0m-33 1h0m8 0h0m5 0h0m17 1h0m2 1h0m-30 1h0m29 0h0m-24 1h0m5 2h0m7 1h0" stroke="#2a2830" stroke-width="1.9" stroke-linecap="square"/>
<path d="M851 120h0m4 3h0m6 0h0m-10 1h0m1 3h0m8 1h0m3 0h0m1 1h0m-13 2h0m10 1h0m-13 1h0m4 0h0m4 0h0m3 1h0m1 0h0m-12 6h0m5 0h0m-2 1h0m3 1h0m-6 2h0m7 0h0m1 0h0m-8 1h0m-4 1h0m4 0h0m1 0h0m9 2h0m-8 2h0m11 0h0m3 0h0m-14 1h0m13 0h0m-18 1h0m4 0h0m2 0h0m11 0h0m-14 1h0m5 0h0m-9 1h0m19 1h0m-20 1h0m8 2h0m1 1h0m6 0h0m2 0h0m-13 1h0m2 0h0m1 0h0m12 2h0m-5 1h0m4 0h0m2 0h0m-8 2h0m-7 1h0m2 0h0m6 1h0m-4 1h0m5 2h0" stroke="#e8e4ec" stroke-width="1.9" stroke-linecap="square"/>
<path d="M858 122h0m-9 1h0m8 0h0m-8 1h0m1 0h0m6 0h0m0 2h0m1 5h0m4 1h0m-14 2h0m4 0h0m6 0h0m1 0h0m3 3h0m-7 2h0m9 1h0m-13 1h0m6 0h0m-1 1h0m-9 1h0m17 0h0m-3 1h0m-19 2h0m22 0h0m-16 1h0m16 1h0m-15 2h0m7 2h0m-2 2h0m-10 1h0m3 0h0m16 1h0m-11 1h0m-6 2h0m14 0h0m1 0h0m-2 1h0m8 1h0m-7 1h0m-1 2h0m1 1h0m-10 1h0m6 0h0m5 0h0m-2 1h0m-6 3h0" stroke="#d0c8d8" stroke-width="1.9" stroke-linecap="square"/>
<path d="M835 212h0m-8 4h0m43 3h0m-7 1h0m-49 4h0m21 1h0m-19 1h0m40 0h0m15 2h0m-50 1h0m15 0h0m17 0h0m-40 3h0m-5 1h0m60 0h0m14 0h0m4 0h0m-67 1h0m26 0h0m29 0h0m-60 2h0m67 0h0m-4 1h0m-18 1h0m-12 1h0m27 0h0m-23 1h0m5 0h0m-35 1h0m32 0h0m13 0h0m11 1h0m7 1h0m-64 3h0m42 3h0m28 1h0m-81 1h0m55 1h0m-27 1h0m-26 1h0m29 0h0m53 0h0m-59 1h0m35 0h0m-18 1h0m0 1h0m47 0h0m-93 2h0m12 0h0m19 1h0m1 0h0m4 0h0m-21 1h0m69 1h0m14 0h0m-49 1h0m-27 1h0m70 0h0m-56 1h0m-10 1h0m10 0h0m13 0h0m-25 1h0m31 2h0m-46 1h0m53 1h0m-11 1h0m-43 1h0m16 0h0m26 0h0m47 0h0m-68 1h0m47 0h0m26 0h0m-81 1h0m10 0h0m35 0h0m13 0h0m-64 1h0m42 0h0m46 0h0m-4 1h0m-57 3h0m8 0h0m24 0h0m17 0h0m-33 1h0m32 1h0m9 1h0m-16 1h0m-32 1h0m10 0h0m28 0h0m-55 1h0m-9 1h0m15 0h0m-20 1h0m72 0h0m-34 1h0m31 2h0m15 0h0m-25 1h0m2 0h0m16 0h0m-27 1h0m26 0h0m-17 1h0m4 0h0m16 0h0m-32 2h0m-36 1h0m53 0h0m6 0h0m-65 1h0m38 0h0m26 0h0m4 0h0m13 0h0m4 0h0m-52 2h0m-4 1h0m45 1h0m11 0h0m-50 3h0m22 0h0m-36 1h0m43 0h0m17 1h0m-54 1h0m3 0h0m8 0h0m18 1h0m28 0h0m-42 2h0m26 1h0m-9 1h0m-13 1h0m-13 1h0m44 1h0m-10 1h0m-33 1h0m26 0h0m-16 1h0m-3 1h0m36 1h0m2 0h0m9 1h0m-47 2h0m27 0h0m-2 4h0m4 1h0m-11 2h0m-6 1h0m26 4h0" stroke="#a89070" stroke-width="2.0" stroke-linecap="square"/>
<path d="M846 212h0m-16 6h0m33 0h0m-27 1h0m20 2h0m14 0h0m-51 2h0m-4 1h0m19 1h0m11 0h0m27 0h0m-27 1h0m28 0h0m-34 1h0m25 0h0m-20 1h0m14 0h0m14 0h0m-63 1h0m20 0h0m36 0h0m-51 1h0m40 0h0m-31 1h0m20 0h0m40 2h0m-76 1h0m51 0h0m3 5h0m-32 2h0m40 1h0m-45 3h0m7 1h0m8 0h0m10 0h0m39 0h0m-72 2h0m-13 1h0m26 0h0m16 0h0m53 0h0m-27 1h0m19 0h0m-28 1h0m9 0h0m-20 1h0m12 1h0m7 0h0m5 0h0m12 0h0m3 0h0m-53 1h0m27 0h0m-56 1h0m22 0h0m37 0h0m-56 1h0m5 1h0m19 0h0m12 2h0m39 0h0m-78 2h0m14 0h0m79 0h0m-53 1h0m25 0h0m23 2h0m-58 1h0m2 0h0m44 1h0m-41 1h0m57 0h0m-24 1h0m-53 1h0m5 0h0m74 0h0m-53 1h0m46 0h0m-2 3h0m-29 1h0m25 2h0m14 0h0m-43 1h0m7 1h0m13 0h0m-51 1h0m24 0h0m12 0h0m35 0h0m-43 1h0m-12 1h0m27 0h0m14 0h0m24 0h0m-88 3h0m25 0h0m26 0h0m-33 1h0m16 0h0m27 0h0m-21 2h0m-37 3h0m66 0h0m-17 1h0m25 0h0m-63 1h0m-6 1h0m37 0h0m10 0h0m25 1h0m-41 1h0m28 0h0m25 2h0m-76 1h0m7 0h0m18 1h0m19 0h0m6 0h0m11 0h0m-45 1h0m52 0h0m1 0h0m-52 1h0m23 0h0m3 0h0m-37 1h0m15 0h0m24 0h0m2 0h0m4 0h0m-35 1h0m43 0h0m-56 1h0m2 0h0m5 0h0m-9 1h0m31 0h0m-25 1h0m6 0h0m11 1h0m5 0h0m15 0h0m-39 1h0m13 0h0m7 0h0m24 0h0m-7 1h0m1 0h0m33 0h0m-35 1h0m12 0h0m-29 5h0m20 2h0m6 0h0m24 0h0m-15 1h0m18 0h0m-35 2h0m17 2h0m15 0h0m-29 2h0m24 0h0m-4 2h0m2 0h0m-29 1h0m0 1h0m9 0h0m24 0h0m-5 1h0m-5 1h0m1 4h0m12 3h0" stroke="#b89c74" stroke-width="2.0" stroke-linecap="square"/>
<path d="M842 207h0m6 2h0m-10 2h0m3 0h0m-12 1h0m33 2h0m-42 1h0m20 2h0m18 2h0m1 1h0m14 3h0m-42 1h0m5 0h0m37 0h0m-31 1h0m-29 2h0m60 1h0m-66 1h0m64 0h0m-59 1h0m11 1h0m-19 1h0m46 2h0m3 0h0m-8 1h0m10 1h0m6 0h0m-8 1h0m20 0h0m-61 1h0m42 1h0m27 1h0m-60 1h0m-19 1h0m85 0h0m-52 1h0m38 0h0m-39 1h0m-32 1h0m56 0h0m13 0h0m21 0h0m-82 1h0m17 1h0m67 0h0m-85 1h0m61 0h0m-9 1h0m21 1h0m-51 2h0m38 0h0m-49 1h0m72 0h0m3 0h0m-86 3h0m85 0h0m-76 1h0m28 0h0m37 0h0m10 0h0m6 0h0m-70 1h0m22 0h0m38 0h0m-32 1h0m-31 1h0m18 0h0m8 0h0m13 0h0m14 0h0m-62 1h0m3 1h0m22 0h0m41 0h0m7 0h0m-78 3h0m36 0h0m-14 1h0m-24 2h0m10 1h0m19 0h0m44 0h0m3 0h0m-37 2h0m17 0h0m21 0h0m-62 1h0m55 0h0m9 0h0m-37 1h0m28 0h0m-66 1h0m41 0h0m26 2h0m-49 1h0m29 0h0m4 0h0m4 0h0m42 0h0m-39 1h0m40 0h0m-82 1h0m81 0h0m-35 3h0m-44 4h0m68 0h0m-74 2h0m8 0h0m76 1h0m-11 1h0m-68 2h0m37 2h0m-5 1h0m40 0h0m-22 1h0m-31 3h0m57 0h0m-67 2h0m18 0h0m29 1h0m-3 1h0m-31 1h0m3 0h0m0 1h0m23 0h0m10 0h0m12 2h0m1 0h0m-56 1h0m44 1h0m25 0h0m-46 1h0m3 1h0m10 0h0m-31 1h0m27 1h0m1 0h0m-5 1h0m-1 1h0m-5 1h0m2 0h0m1 0h0m27 0h0m16 2h0m-44 3h0m9 0h0m15 0h0m-23 1h0m43 0h0m-9 3h0m-1 1h0m-23 2h0m1 0h0m17 0h0m-24 2h0m5 0h0m24 7h0" stroke="#d0b890" stroke-width="2.0" stroke-linecap="square"/>
<path d="M831 208h0m-1 2h0m23 1h0m-10 1h0m10 1h0m5 1h0m-33 2h0m2 0h0m5 3h0m22 0h0m-17 1h0m-5 1h0m26 2h0m-27 2h0m49 2h0m-35 1h0m-23 1h0m28 1h0m27 0h0m4 0h0m-66 1h0m48 0h0m15 0h0m-62 1h0m-12 1h0m4 0h0m2 0h0m50 0h0m-28 1h0m-21 2h0m13 1h0m16 1h0m47 0h0m-80 1h0m14 0h0m67 0h0m-81 1h0m14 0h0m2 0h0m40 0h0m-19 2h0m-25 1h0m12 0h0m21 1h0m33 0h0m-56 1h0m17 1h0m-22 3h0m1 1h0m-16 2h0m58 0h0m15 0h0m-15 1h0m17 0h0m2 5h0m-65 1h0m5 0h0m14 0h0m45 2h0m-72 1h0m8 0h0m30 0h0m9 0h0m-48 1h0m41 2h0m47 0h0m-74 1h0m19 0h0m22 0h0m36 0h0m-38 1h0m-37 1h0m5 0h0m31 0h0m34 0h0m6 1h0m-35 1h0m7 0h0m-6 1h0m2 2h0m32 0h0m-48 1h0m9 2h0m23 2h0m-53 2h0m56 0h0m21 0h0m-65 2h0m36 0h0m-57 1h0m66 0h0m4 0h0m-61 1h0m39 0h0m11 0h0m-66 2h0m7 0h0m3 0h0m7 0h0m22 0h0m-38 1h0m19 0h0m51 3h0m-40 2h0m-23 3h0m5 0h0m66 0h0m-32 1h0m-29 1h0m7 0h0m18 0h0m33 0h0m9 0h0m-3 2h0m-5 1h0m14 0h0m-6 2h0m-65 1h0m11 2h0m2 2h0m41 0h0m-40 1h0m60 2h0m-55 1h0m-12 2h0m30 0h0m12 0h0m10 0h0m-14 2h0m28 0h0m-50 1h0m16 0h0m37 0h0m-22 4h0m-1 1h0m20 0h0m-9 1h0m-18 2h0m22 0h0m-14 2h0m-6 1h0m1 6h0m15 0h0" stroke="#8a7458" stroke-width="2.0" stroke-linecap="square"/>
<path d="M843 206h0m-1 1h0m-1 2h0m-9 2h0m10 0h0m-7 1h0m26 2h0m-25 2h0m8 0h0m4 0h0m3 0h0m4 1h0m-30 2h0m17 0h0m-1 1h0m15 0h0m-1 3h0m3 1h0m1 0h0m3 0h0m-39 2h0m11 0h0m7 1h0m-27 1h0m-4 1h0m53 1h0m-21 1h0m-10 1h0m-2 1h0m19 0h0m-17 1h0m8 0h0m24 0h0m-31 1h0m52 0h0m-33 7h0m21 0h0m-47 3h0m17 0h0m3 0h0m1 0h0m30 0h0m10 0h0m-78 1h0m12 1h0m75 1h0m-42 1h0m-37 1h0m28 0h0m16 0h0m-28 1h0m15 0h0m37 2h0m-23 3h0m10 1h0m28 0h0m-54 1h0m49 0h0m-33 1h0m3 1h0m-45 1h0m9 1h0m44 0h0m-54 1h0m17 1h0m37 1h0m-44 3h0m-2 1h0m79 0h0m-77 1h0m-6 1h0m80 0h0m1 0h0m5 0h0m-12 1h0m9 0h0m-84 1h0m34 0h0m11 1h0m-44 1h0m73 1h0m-63 1h0m29 0h0m43 0h0m-11 1h0m11 2h0m-44 2h0m52 0h0m-45 1h0m24 0h0m13 0h0m-66 2h0m23 0h0m17 2h0m17 0h0m-9 2h0m-13 1h0m33 0h0m-72 1h0m37 1h0m41 0h0m-75 1h0m18 1h0m31 0h0m-23 1h0m-17 2h0m-11 1h0m47 1h0m10 1h0m-12 1h0m13 0h0m-54 1h0m64 0h0m7 1h0m-62 1h0m1 0h0m42 0h0m-43 2h0m22 0h0m36 1h0m-41 1h0m-25 1h0m8 0h0m45 0h0m5 0h0m18 0h0m-31 5h0m30 0h0m-57 2h0m13 1h0m29 1h0m-13 1h0m-22 5h0m9 0h0m1 0h0m8 0h0m24 1h0m7 0h0m-7 6h0m-20 2h0m12 1h0m1 0h0" stroke="#908070" stroke-width="2.0" stroke-linecap="square"/>
<path d="M846 210h0m-9 6h0m20 1h0m-17 3h0m25 0h0m-2 5h0m-22 2h0m7 0h0m17 1h0m-49 1h0m33 0h0m-43 2h0m56 3h0m2 0h0m-59 3h0m28 1h0m54 1h0m-35 1h0m8 0h0m-9 2h0m-39 1h0m8 0h0m18 0h0m9 0h0m-4 1h0m-34 1h0m62 0h0m3 0h0m-72 1h0m25 0h0m11 0h0m14 1h0m9 0h0m-35 1h0m-2 1h0m37 0h0m17 0h0m-38 1h0m53 0h0m-81 1h0m55 0h0m15 3h0m6 0h0m-62 1h0m-15 1h0m13 0h0m45 0h0m-53 2h0m80 0h0m-68 3h0m49 0h0m23 0h0m-13 1h0m6 1h0m-70 1h0m53 1h0m-35 2h0m1 0h0m36 0h0m16 3h0m-43 1h0m4 0h0m-8 2h0m5 0h0m-37 1h0m58 0h0m18 0h0m-49 1h0m61 3h0m-87 1h0m65 1h0m7 0h0m-40 1h0m10 1h0m-5 1h0m22 0h0m3 0h0m-34 1h0m5 0h0m35 0h0m-27 1h0m10 0h0m4 0h0m-42 1h0m-6 1h0m8 0h0m33 0h0m45 0h0m4 0h0m-65 1h0m23 1h0m29 0h0m1 0h0m7 1h0m-61 1h0m47 0h0m-22 1h0m6 0h0m24 0h0m-69 4h0m2 0h0m16 0h0m36 0h0m7 0h0m15 1h0m4 2h0m-42 1h0m-2 1h0m-32 1h0m22 0h0m-3 1h0m27 0h0m-25 2h0m2 2h0m30 0h0m-38 1h0m-1 1h0m19 0h0m-11 1h0m21 0h0m37 0h0m-34 1h0m-11 1h0m35 1h0m-49 2h0m58 1h0m-38 2h0m25 0h0m13 2h0m-35 1h0m22 1h0m11 1h0m-34 3h0m5 0h0m28 0h0m-43 1h0m25 0h0m-18 2h0m9 3h0m6 2h0" stroke="#c0a880" stroke-width="2.0" stroke-linecap="square"/>
<path d="M835 215h0m-6 2h0m33 0h0m-42 1h0m48 0h0m-30 1h0m-23 4h0m50 1h0m-10 2h0m-39 1h0m26 0h0m16 0h0m-30 2h0m4 0h0m24 0h0m5 0h0m-48 3h0m10 4h0m1 0h0m4 0h0m56 0h0m-14 1h0m14 1h0m1 0h0m-72 1h0m67 1h0m-64 1h0m35 0h0m4 0h0m15 0h0m-42 1h0m7 1h0m36 0h0m-62 1h0m29 0h0m-31 1h0m25 0h0m19 0h0m-25 1h0m1 1h0m15 0h0m24 0h0m11 0h0m4 0h0m-27 1h0m-20 1h0m53 0h0m-43 1h0m12 0h0m30 0h0m-34 1h0m8 0h0m-22 1h0m15 0h0m-36 1h0m64 0h0m-75 1h0m11 0h0m58 0h0m9 3h0m-78 1h0m17 0h0m-14 1h0m49 3h0m44 0h0m-74 1h0m6 0h0m32 0h0m36 0h0m-94 2h0m64 0h0m9 0h0m21 0h0m-85 2h0m47 0h0m26 0h0m2 0h0m-16 1h0m-12 1h0m45 0h0m-70 1h0m-17 2h0m-12 2h0m64 0h0m-55 2h0m80 0h0m-34 1h0m17 0h0m-56 1h0m14 0h0m50 0h0m-55 1h0m12 0h0m-30 2h0m38 0h0m24 0h0m11 0h0m15 0h0m-33 2h0m-47 3h0m82 0h0m-69 1h0m25 0h0m43 1h0m4 0h0m-14 2h0m19 0h0m-83 2h0m53 1h0m-40 2h0m17 0h0m20 0h0m-22 2h0m8 0h0m22 0h0m1 2h0m20 0h0m-51 2h0m32 0h0m-18 1h0m17 0h0m-39 1h0m7 2h0m54 1h0m-19 1h0m-20 1h0m-23 1h0m28 0h0m3 0h0m22 0h0m-35 1h0m22 0h0m20 2h0m-13 1h0m12 0h0m5 0h0m-43 1h0m-6 1h0m14 1h0m-22 2h0m18 0h0m8 1h0m25 0h0m-4 1h0m12 4h0m-44 1h0m10 1h0m16 0h0m-10 2h0m9 0h0m1 2h0m-6 3h0m18 2h0m-2 1h0m1 4h0" stroke="#e0d0b0" stroke-width="2.0" stroke-linecap="square"/>
<path d="M850 207h0m-13 3h0m11 1h0m2 0h0m7 2h0m-9 1h0m-31 4h0m-1 2h0m56 0h0m-2 1h0m-46 1h0m18 0h0m6 0h0m-12 2h0m19 0h0m-17 1h0m1 0h0m20 2h0m7 0h0m-53 3h0m20 0h0m47 2h0m-7 4h0m-36 1h0m14 0h0m4 0h0m-33 1h0m2 3h0m32 2h0m31 0h0m-48 1h0m-23 3h0m37 0h0m30 0h0m-18 1h0m-56 1h0m59 0h0m20 2h0m-13 1h0m-4 1h0m-1 1h0m10 0h0m2 1h0m-55 1h0m9 0h0m58 0h0m-83 1h0m10 0h0m1 1h0m21 0h0m52 0h0m-39 1h0m-30 1h0m12 1h0m37 0h0m0 1h0m-65 2h0m56 0h0m21 0h0m2 0h0m-58 1h0m-1 1h0m44 0h0m-53 1h0m84 0h0m-64 1h0m21 0h0m-26 1h0m3 0h0m66 0h0m-53 1h0m-16 1h0m-6 1h0m-14 1h0m8 0h0m25 0h0m24 1h0m-52 2h0m40 2h0m-24 3h0m9 0h0m46 1h0m-66 2h0m68 0h0m-53 1h0m1 0h0m16 0h0m-11 1h0m39 2h0m-29 4h0m16 0h0m-39 1h0m40 1h0m-38 1h0m54 0h0m18 1h0m-11 1h0m-51 1h0m-14 1h0m42 0h0m26 0h0m-49 1h0m55 0h0m-14 1h0m10 0h0m-26 1h0m10 0h0m13 1h0m0 2h0m-49 2h0m44 0h0m13 0h0m5 0h0m-25 1h0m-30 6h0m53 2h0m7 1h0m-60 1h0m45 0h0m-24 1h0m9 0h0m-28 1h0m43 4h0m-27 1h0m23 2h0m9 0h0m-15 2h0m20 7h0" stroke="#e8d8b8" stroke-width="2.0" stroke-linecap="square"/>
<path d="M835 207h0m-8 2h0m4 0h0m19 3h0m7 0h0m-13 4h0m11 2h0m-3 1h0m6 0h0m-42 1h0m4 1h0m52 0h0m-59 1h0m24 0h0m-8 2h0m23 0h0m-30 1h0m45 1h0m-49 1h0m43 0h0m1 0h0m5 0h0m-19 2h0m18 0h0m-48 1h0m34 0h0m27 0h0m-32 2h0m7 0h0m-3 1h0m9 1h0m-51 2h0m40 0h0m31 0h0m-17 1h0m-49 1h0m10 0h0m20 0h0m4 0h0m28 0h0m11 0h0m-20 1h0m-35 1h0m22 1h0m26 0h0m-34 2h0m-9 1h0m59 0h0m-50 2h0m15 0h0m1 0h0m11 0h0m23 0h0m1 1h0m1 0h0m-11 2h0m10 1h0m1 1h0m2 0h0m-54 1h0m23 0h0m23 2h0m7 0h0m-11 1h0m-20 1h0m35 0h0m-4 1h0m6 0h0m-46 2h0m16 0h0m34 0h0m-23 1h0m7 0h0m15 1h0m-32 1h0m30 2h0m1 0h0m1 0h0m-16 2h0m-3 1h0m19 0h0m-3 3h0m1 0h0m5 0h0m0 1h0m-14 2h0m2 0h0m14 0h0m-3 6h0m5 0h0m0 1h0m-3 3h0m5 2h0m-1 2h0m1 0h0m-1 1h0m2 0h0m5 5h0m-7 1h0m1 7h0m3 1h0m-3 1h0m2 2h0m2 0h0m-1 2h0m0 1h0m0 1h0m-2 2h0m2 1h0m-5 1h0m2 0h0m6 0h0m-2 1h0m1 1h0m-3 1h0m2 2h0m-6 1h0m6 1h0m0 1h0m-5 4h0m3 3h0m-5 3h0m1 0h0m2 0h0m-5 3h0m5 0h0m-3 1h0m1 1h0m0 1h0m-2 1h0" stroke="#6a5a58" stroke-width="1.7" stroke-linecap="square"/>
<path d="M845 207h0m-14 2h0m10 4h0m13 0h0m2 2h0m5 0h0m-32 1h0m2 1h0m33 0h0m-12 2h0m9 2h0m-6 4h0m-42 1h0m63 0h0m-18 1h0m19 0h0m-28 3h0m21 0h0m-64 1h0m17 3h0m8 0h0m45 0h0m7 0h0m-14 2h0m8 0h0m-71 1h0m63 0h0m-11 1h0m1 0h0m24 1h0m-54 1h0m32 1h0m26 0h0m-23 2h0m-36 1h0m16 1h0m34 0h0m-51 2h0m71 1h0m-55 2h0m35 0h0m0 1h0m18 0h0m2 0h0m1 1h0m1 1h0m-51 1h0m4 0h0m35 0h0m-12 2h0m-8 1h0m-11 1h0m44 0h0m4 2h0m-33 2h0m32 0h0m-8 1h0m11 0h0m2 1h0m-19 1h0m-6 1h0m-4 1h0m27 2h0m4 0h0m-3 4h0m5 1h0m-1 1h0m-3 2h0m6 5h0m-3 1h0m1 2h0m1 5h0m1 4h0m2 2h0m1 1h0m-2 1h0m3 0h0m-4 1h0m2 1h0m0 1h0m1 2h0m-3 8h0m8 0h0m-4 1h0m1 8h0m0 1h0m-7 4h0m3 4h0m1 1h0m1 2h0m0 1h0m-6 2h0m4 0h0m-6 3h0" stroke="#5a4a48" stroke-width="1.7" stroke-linecap="square"/>
<path d="M811 261h0m1 0h0m2 0h0m-3 1h0m-1 2h0m4 0h0m-3 1h0m4 1h0m2 0h0m15 0h0m-1 1h0m4 0h0m2 0h0m-28 1h0m7 0h0m19 0h0m1 0h0m-23 1h0m3 0h0m14 0h0m2 0h0m-13 1h0m1 0h0m4 0h0m1 0h0m1 0h0m8 0h0m4 0h0m1 0h0m-30 1h0m1 0h0m2 0h0m3 0h0m3 0h0m1 0h0m7 0h0m-14 1h0m27 0h0m-23 1h0m1 0h0m12 0h0m16 0h0m-17 1h0m5 0h0m1 0h0m9 0h0m1 0h0m-8 1h0m6 0h0m4 0h0m-11 1h0m1 0h0m9 0h0m-15 1h0m10 1h0m2 0h0m8 0h0m-22 1h0m14 0h0m3 0h0m2 0h0m2 0h0m-17 1h0m8 0h0m13 0h0m1 0h0m-24 1h0m4 0h0m4 0h0m2 0h0m12 0h0m-14 2h0m-11 1h0m2 1h0m16 0h0m6 0h0m-24 1h0m15 0h0m-14 1h0m3 0h0m-1 1h0m9 0h0m2 0h0m-14 1h0m20 0h0m-15 1h0m8 0h0m0 2h0m1 0h0m-4 1h0m2 0h0" stroke="#8a8878" stroke-width="2" stroke-linecap="square"/>
<path d="M814 261h0m-2 1h0m4 0h0m1 0h0m-7 1h0m5 0h0m3 0h0m-6 2h0m-4 1h0m2 0h0m3 0h0m3 0h0m17 0h0m-20 1h0m2 0h0m5 0h0m1 0h0m9 0h0m5 1h0m-26 1h0m1 0h0m2 0h0m4 0h0m3 0h0m17 0h0m-25 1h0m2 0h0m13 0h0m9 0h0m-22 1h0m12 0h0m7 0h0m3 0h0m3 0h0m-22 1h0m9 0h0m4 0h0m9 0h0m7 0h0m-17 1h0m4 0h0m2 0h0m11 0h0m2 0h0m-18 1h0m11 1h0m6 0h0m-18 1h0m1 1h0m12 0h0m5 0h0m1 0h0m3 0h0m-26 1h0m14 0h0m7 0h0m3 0h0m-22 1h0m9 0h0m4 0h0m-12 1h0m12 0h0m5 0h0m5 0h0m-24 1h0m5 0h0m1 0h0m2 0h0m12 0h0m8 0h0m-24 1h0m1 0h0m4 0h0m9 0h0m-9 1h0m2 0h0m9 0h0m2 0h0m1 0h0m3 0h0m-25 1h0m13 0h0m1 1h0m6 0h0m-3 1h0m7 0h0m-18 1h0m5 1h0m2 0h0m3 0h0m-11 1h0m5 0h0m4 0h0m4 0h0m4 0h0m-15 1h0m15 0h0m-9 1h0m1 0h0m2 0h0m3 0h0m-8 1h0m6 1h0" stroke="#7a7868" stroke-width="2" stroke-linecap="square"/>
<path d="M833 266h0m2 0h0m-5 1h0m7 0h0m-10 1h0m7 0h0m-10 1h0m6 0h0m9 2h0m-10 1h0m2 0h0m2 0h0m2 0h0m2 0h0m4 0h0m-2 1h0m-7 2h0m4 0h0m2 1h0m2 0h0m1 0h0m2 0h0m-8 1h0m2 1h0m8 0h0m3 0h0m-21 1h0m11 0h0m5 0h0m-1 1h0m4 0h0m-17 1h0m6 0h0m3 0h0m-12 1h0m15 0h0m12 0h0m-26 1h0m14 0h0m9 0h0m-25 1h0m17 1h0m-17 1h0m9 0h0m-1 1h0m11 0h0m-18 1h0m11 0h0m6 0h0m1 0h0m-16 1h0m1 0h0m2 0h0m2 1h0m1 0h0m1 0h0m6 0h0m4 0h0m-11 1h0m9 1h0" stroke="#9a9888" stroke-width="2.0" stroke-linecap="square"/>
<path d="M860 297h0m-8 2h0m7 0h0m-3 1h0m1 0h0m5 0h0m4 0h0m-24 2h0m19 0h0m3 0h0m-21 1h0m14 0h0m5 0h0m-8 1h0m2 0h0m-15 1h0m16 0h0m8 0h0m-26 1h0m9 0h0m16 0h0m-14 1h0m11 0h0m-2 1h0m2 0h0m11 0h0m-26 1h0m18 0h0m3 0h0m8 0h0m2 0h0m-35 1h0m2 0h0m9 0h0m3 0h0m9 0h0m1 0h0m-22 1h0m14 0h0m21 0h0m-39 1h0m1 0h0m21 0h0m8 0h0m7 0h0m2 0h0m-31 1h0m8 0h0m11 0h0m-15 1h0m-9 1h0m2 0h0m20 0h0m2 0h0m-21 1h0m17 0h0m11 0h0m-31 1h0m2 0h0m1 0h0m4 0h0m1 0h0m13 0h0m10 0h0m7 0h0m-31 1h0m4 0h0m6 0h0m-12 1h0m2 0h0m10 0h0m14 0h0m-14 1h0m6 0h0m-3 1h0m2 0h0m12 0h0m4 0h0m-32 1h0m29 0h0m3 0h0m1 0h0m-32 1h0m6 0h0m10 0h0m7 0h0m3 0h0m-2 1h0m3 0h0m1 1h0" stroke="#b0a898" stroke-width="2.0" stroke-linecap="square"/>
<path d="M856 296h0m-7 3h0m10 1h0m-17 1h0m9 0h0m6 0h0m8 0h0m-13 1h0m12 0h0m-24 1h0m1 0h0m10 1h0m6 0h0m7 0h0m2 0h0m-22 1h0m-2 2h0m12 0h0m1 0h0m1 0h0m12 0h0m8 0h0m-12 1h0m3 0h0m-1 1h0m4 0h0m-31 1h0m4 0h0m19 0h0m2 0h0m4 0h0m-25 1h0m15 0h0m1 0h0m2 0h0m7 0h0m-19 1h0m25 0h0m-32 1h0m10 0h0m4 0h0m12 0h0m1 0h0m13 0h0m-25 1h0m22 0h0m1 0h0m3 0h0m-17 1h0m12 1h0m-13 1h0m2 0h0m5 0h0m2 0h0m-15 1h0m23 0h0m1 0h0m-32 1h0m-2 1h0m8 0h0m1 0h0m3 0h0m16 0h0m-19 1h0m8 0h0m3 0h0m9 1h0m-24 1h0m4 0h0m9 0h0m-4 1h0m2 0h0m10 0h0m2 0h0m-6 1h0m3 1h0m4 0h0m-10 1h0" stroke="#c0b8a8" stroke-width="2.0" stroke-linecap="square"/>
<path d="M861 297h0m-13 2h0m16 1h0m-15 1h0m10 0h0m-2 1h0m5 0h0m-9 1h0m6 0h0m9 0h0m-25 1h0m5 0h0m1 0h0m3 0h0m1 0h0m-2 1h0m19 0h0m1 0h0m-29 1h0m3 0h0m2 0h0m20 0h0m-25 1h0m27 0h0m5 0h0m-31 1h0m8 0h0m12 0h0m-21 1h0m7 0h0m6 0h0m5 0h0m7 0h0m5 0h0m-7 1h0m14 1h0m2 0h0m-37 1h0m16 0h0m14 0h0m1 0h0m-31 1h0m6 0h0m-8 1h0m7 0h0m12 0h0m16 0h0m-21 1h0m1 0h0m10 0h0m-18 1h0m7 0h0m16 0h0m6 0h0m-27 1h0m12 0h0m5 0h0m1 0h0m5 0h0m-29 1h0m3 0h0m18 0h0m-23 1h0m3 0h0m32 0h0m-22 1h0m5 0h0m8 0h0m2 0h0m-24 1h0m12 0h0m7 0h0m-4 1h0m20 0h0m-33 1h0m2 0h0m26 0h0m5 0h0m-19 1h0m15 0h0m-4 2h0" stroke="#d0c8b8" stroke-width="2.0" stroke-linecap="square"/>
<path d="M765 247h0m5 3h0m-7 2h0m1 0h0m1 0h0m5 0h0m7 0h0m-1 1h0m-4 8h0m4 0h0m0 5h0m4 0h0m-6 1h0m-3 1h0m1 0h0m-5 5h0m3 1h0m5 2h0m5 1h0m-14 1h0m13 0h0m-2 3h0m2 0h0m-6 1h0m-6 1h0m3 0h0m8 4h0m-10 1h0m4 1h0m-6 1h0m-1 2h0m3 0h0m2 0h0m5 1h0m-12 1h0m6 0h0m3 1h0m-7 2h0m15 0h0m-16 7h0m6 0h0m8 0h0m-6 2h0m7 3h0m-7 1h0m3 1h0m-12 1h0m12 2h0m4 0h0m-13 3h0m14 2h0m-14 1h0m8 0h0m1 2h0m-1 5h0m-1 1h0m-3 1h0m1 0h0m-8 3h0m3 0h0m9 3h0m5 0h0m-12 3h0m12 1h0m-13 1h0m6 0h0m-4 1h0m12 0h0m-9 4h0m-5 1h0m-4 4h0m3 1h0m10 0h0m2 0h0m-14 1h0m8 7h0m-5 1h0m5 1h0m3 0h0m-5 3h0m1 3h0m2 0h0m-10 5h0m5 6h0m-4 3h0m9 0h0m-9 1h0m15 2h0m-2 6h0m-15 1h0m5 0h0m5 1h0m4 0h0m4 3h0m-10 1h0m-6 1h0m-1 1h0m15 2h0m-15 1h0m9 0h0m-4 6h0m-1 1h0m6 1h0m4 3h0m-13 1h0m13 1h0m-7 3h0m-2 2h0m2 0h0m1 0h0m5 1h0m-2 1h0m3 0h0m-5 2h0m-12 2h0m2 0h0m2 1h0m-2 1h0m7 0h0m4 0h0m3 1h0m-5 1h0m1 2h0m6 3h0m0 2h0m-19 1h0m2 0h0m12 1h0m1 1h0m-2 1h0m2 0h0m3 0h0m-10 1h0m5 0h0m-13 1h0m18 2h0m1 0h0m-6 1h0m-6 1h0m12 1h0m-12 1h0m-5 7h0m9 1h0m-1 2h0m-10 2h0m15 0h0m-10 1h0m9 1h0m3 0h0m-14 1h0m4 0h0m11 0h0m1 0h0m-17 1h0m3 0h0m4 1h0m7 3h0m3 0h0m-7 6h0m4 0h0m1 0h0m-1 2h0m-14 1h0m8 1h0m-1 2h0m8 2h0m0 1h0m-17 2h0m1 1h0m3 0h0m2 4h0m11 1h0m-6 2h0m-6 1h0m2 0h0m9 0h0m-18 1h0m13 0h0m1 3h0m-5 1h0m8 1h0m3 0h0m-2 6h0m-17 3h0m0 4h0m5 3h0m-4 1h0m18 2h0m-20 2h0m18 5h0m-5 1h0m1 0h0m1 3h0m-16 1h0m2 0h0m13 2h0m3 0h0m-6 1h0m6 0h0m-6 2h0m-14 3h0m4 0h0m18 0h0m-1 2h0m-15 3h0m8 1h0m-11 1h0m6 1h0m6 1h0m-8 1h0m4 2h0m2 1h0m8 1h0m-5 1h0m6 5h0m-13 6h0m4 0h0m3 1h0m-7 2h0m2 3h0m5 1h0m-14 2h0m20 0h0m-18 1h0m16 0h0m-18 2h0m17 1h0m-9 3h0m10 0h0m-15 2h0m14 2h0m-5 2h0m-13 4h0m20 2h0m-15 1h0m11 0h0m-18 2h0m6 0h0" stroke="#7a6a60" stroke-width="1.8" stroke-linecap="square"/>
<path d="M774 247h0m4 2h0m-9 1h0m11 2h0m-5 1h0m-9 1h0m6 1h0m7 0h0m-15 3h0m3 2h0m-3 1h0m7 1h0m7 2h0m-8 1h0m-3 1h0m-4 3h0m8 2h0m8 0h0m-10 2h0m-5 1h0m14 0h0m-6 1h0m4 0h0m-6 1h0m-7 1h0m12 2h0m1 1h0m3 1h0m-5 1h0m2 0h0m4 1h0m-10 1h0m9 1h0m-7 3h0m-9 4h0m5 1h0m6 0h0m5 0h0m-3 1h0m4 0h0m-7 1h0m-2 1h0m6 2h0m2 0h0m-8 1h0m0 1h0m-3 1h0m11 7h0m-16 1h0m7 0h0m4 0h0m3 0h0m-4 1h0m5 0h0m-12 1h0m5 0h0m-6 1h0m1 2h0m4 1h0m-5 1h0m14 2h0m-14 1h0m14 1h0m-16 1h0m7 0h0m-7 4h0m3 0h0m-3 1h0m8 1h0m-1 4h0m-2 1h0m2 0h0m8 0h0m-2 2h0m-6 1h0m6 0h0m-3 2h0m3 2h0m-10 2h0m14 0h0m-4 1h0m5 0h0m-1 2h0m-13 1h0m13 0h0m-7 1h0m6 0h0m-13 1h0m10 0h0m3 0h0m-13 1h0m0 1h0m11 3h0m-8 4h0m8 0h0m-7 8h0m7 0h0m-1 2h0m-1 2h0m-4 2h0m7 1h0m-5 1h0m-9 2h0m4 0h0m9 0h0m1 0h0m-7 1h0m-2 9h0m11 0h0m-15 1h0m2 2h0m2 0h0m8 0h0m-7 4h0m2 2h0m3 0h0m-12 1h0m12 5h0m5 4h0m-5 2h0m-7 1h0m5 0h0m-4 6h0m-5 1h0m5 2h0m10 6h0m-19 2h0m6 3h0m3 0h0m6 0h0m-12 1h0m4 1h0m11 1h0m-10 2h0m-5 5h0m15 2h0m-17 1h0m14 2h0m-8 1h0m2 1h0m-5 2h0m2 2h0m-3 1h0m7 0h0m-11 4h0m6 1h0m9 1h0m-8 1h0m5 1h0m-9 1h0m-1 1h0m4 0h0m11 3h0m-1 3h0m3 0h0m-14 3h0m8 0h0m-7 1h0m-7 1h0m18 3h0m2 5h0m-8 4h0m-4 1h0m-2 1h0m3 0h0m11 0h0m-10 3h0m0 4h0m-3 1h0m1 7h0m11 3h0m-4 1h0m-11 2h0m9 3h0m-13 2h0m12 1h0m7 0h0m-7 1h0m7 2h0m-15 3h0m3 1h0m-5 3h0m9 6h0m-3 1h0m10 1h0m1 0h0m-12 1h0m5 0h0m-9 2h0m12 1h0m-15 2h0m13 1h0m-11 1h0m7 0h0m-12 1h0m16 1h0m4 5h0m-10 1h0m-1 3h0m-6 6h0m2 0h0m-1 1h0m7 0h0m3 6h0m-5 2h0m-5 1h0m8 4h0m-12 1h0m21 0h0m-3 1h0m-13 1h0m7 0h0m3 1h0m2 0h0m-5 1h0m1 0h0m3 2h0m0 1h0m-4 3h0m-3 2h0m-8 1h0m2 3h0m16 0h0m-1 1h0m-6 2h0m2 2h0m6 3h0m-21 2h0m7 2h0m0 1h0m1 1h0m11 1h0m-4 3h0" stroke="#c8b8a8" stroke-width="1.8" stroke-linecap="square"/>
<path d="M769 246h0m8 1h0m0 3h0m-3 1h0m-4 2h0m-2 3h0m1 1h0m6 1h0m3 1h0m-9 3h0m-3 4h0m3 0h0m-6 1h0m3 1h0m7 3h0m-7 4h0m11 2h0m-14 1h0m12 0h0m-9 3h0m13 1h0m-16 2h0m3 0h0m8 0h0m1 3h0m-9 1h0m8 4h0m-2 1h0m-1 4h0m5 2h0m-2 1h0m-6 2h0m6 0h0m-4 1h0m-5 2h0m12 2h0m-7 2h0m2 2h0m3 0h0m3 1h0m-10 1h0m-5 1h0m16 0h0m1 0h0m-8 1h0m-1 1h0m1 0h0m-1 1h0m-5 2h0m10 0h0m4 0h0m-14 1h0m9 2h0m3 0h0m-6 2h0m-9 1h0m6 0h0m-6 2h0m9 0h0m1 0h0m-8 2h0m12 0h0m-12 1h0m14 0h0m-12 2h0m-1 1h0m10 0h0m1 1h0m-11 1h0m14 1h0m-2 1h0m1 2h0m-12 1h0m1 0h0m11 0h0m-4 2h0m-9 1h0m4 0h0m10 1h0m-15 2h0m6 3h0m2 3h0m-7 2h0m6 1h0m2 1h0m3 0h0m-9 1h0m-1 2h0m5 2h0m4 1h0m-5 2h0m1 0h0m7 0h0m-6 6h0m-4 2h0m11 5h0m-10 1h0m5 0h0m-3 1h0m-2 1h0m2 1h0m1 0h0m-11 1h0m3 0h0m-1 2h0m-2 2h0m11 0h0m-2 1h0m2 0h0m-3 1h0m-6 1h0m0 3h0m6 0h0m8 2h0m2 0h0m-2 1h0m-10 1h0m-3 2h0m0 1h0m6 2h0m6 4h0m-17 1h0m10 1h0m0 2h0m9 2h0m-17 4h0m6 1h0m6 4h0m-4 3h0m7 1h0m-13 2h0m10 1h0m-4 2h0m-6 1h0m4 4h0m2 1h0m8 1h0m-11 4h0m11 2h0m-10 1h0m7 0h0m-15 5h0m2 1h0m9 0h0m0 1h0m-4 2h0m8 0h0m0 5h0m-2 8h0m0 2h0m-1 4h0m-11 5h0m6 0h0m2 2h0m-3 2h0m-3 1h0m0 1h0m-1 1h0m16 2h0m-5 1h0m3 0h0m-4 6h0m6 0h0m-12 2h0m9 1h0m-17 2h0m10 0h0m2 0h0m6 0h0m-10 2h0m4 1h0m8 0h0m-17 1h0m13 0h0m-8 4h0m2 0h0m-10 1h0m5 1h0m2 3h0m-7 1h0m4 0h0m12 1h0m3 0h0m-18 1h0m-1 1h0m1 1h0m0 1h0m3 2h0m10 1h0m4 0h0m-14 1h0m5 1h0m9 0h0m-14 1h0m6 1h0m1 2h0m1 0h0m0 2h0m-9 1h0m14 4h0m-19 1h0m4 0h0m12 0h0m-5 8h0m7 4h0m-13 3h0m4 0h0m-7 2h0m3 0h0m0 1h0m-5 2h0m17 0h0m-7 1h0m-5 1h0m10 3h0m-1 1h0m-10 1h0m12 0h0m-9 5h0m-2 3h0m-5 3h0m19 1h0m-1 1h0m-15 1h0m12 0h0m-15 2h0m11 0h0m8 1h0m0 1h0m-18 2h0m11 1h0m1 0h0m-11 1h0m11 3h0m1 3h0m-13 3h0m8 0h0m2 1h0m-11 5h0m4 3h0m-4 2h0m0 2h0" stroke="#4a3a30" stroke-width="1.8" stroke-linecap="square"/>
<path d="M772 246h0m-4 2h0m-5 3h0m10 0h0m-3 1h0m5 1h0m4 0h0m1 1h0m-15 2h0m6 1h0m-4 4h0m-3 1h0m1 1h0m-2 2h0m14 1h0m-11 1h0m9 0h0m-12 4h0m3 1h0m5 7h0m3 0h0m-6 2h0m3 1h0m6 0h0m-11 1h0m7 0h0m4 7h0m1 2h0m0 4h0m-9 1h0m4 0h0m2 4h0m-11 1h0m8 0h0m-4 1h0m-2 4h0m1 0h0m9 2h0m-8 1h0m-3 3h0m13 3h0m-7 1h0m1 0h0m-6 3h0m7 0h0m-9 1h0m9 0h0m1 0h0m7 1h0m-8 1h0m5 0h0m-12 1h0m7 1h0m5 1h0m0 1h0m-4 2h0m5 1h0m-12 2h0m-2 6h0m16 0h0m-12 1h0m5 0h0m7 2h0m-1 1h0m-15 1h0m0 3h0m13 0h0m1 3h0m-2 1h0m2 2h0m-1 7h0m-9 1h0m10 4h0m1 0h0m-10 2h0m-8 3h0m4 0h0m5 0h0m4 1h0m3 0h0m1 2h0m-16 6h0m-2 1h0m2 0h0m6 0h0m6 0h0m-12 5h0m8 1h0m2 2h0m-8 1h0m4 3h0m7 0h0m-9 2h0m1 1h0m5 5h0m-10 4h0m17 7h0m-19 5h0m17 3h0m-13 1h0m2 1h0m-4 1h0m15 3h0m-18 1h0m7 4h0m-3 1h0m2 0h0m4 2h0m-7 7h0m-1 1h0m-1 1h0m5 0h0m-5 1h0m0 1h0m4 1h0m12 0h0m-14 1h0m14 3h0m-8 6h0m-2 2h0m2 0h0m-11 5h0m13 0h0m1 1h0m-8 2h0m6 0h0m-11 1h0m2 3h0m12 0h0m4 2h0m-8 2h0m2 1h0m1 3h0m3 1h0m-1 1h0m-3 1h0m-1 1h0m1 3h0m6 1h0m-19 1h0m18 0h0m0 1h0m-13 1h0m-4 4h0m5 0h0m3 1h0m-10 1h0m5 2h0m4 10h0m3 0h0m-7 1h0m-2 1h0m-4 1h0m13 2h0m3 6h0m3 6h0m-3 1h0m2 2h0m-19 1h0m22 0h0m-11 1h0m3 3h0m-1 3h0m2 0h0m-10 1h0m9 1h0m-12 1h0m10 2h0m1 2h0m-6 2h0m-7 2h0m18 0h0m2 0h0m-18 1h0m12 0h0m2 1h0m-13 2h0m2 1h0m14 0h0m-11 3h0m5 4h0m4 0h0m2 0h0m-18 2h0m6 0h0m-6 1h0m13 1h0m-9 2h0m3 2h0m-8 3h0m15 3h0m-11 1h0m8 1h0m2 2h0m5 0h0m-6 2h0m1 0h0m-13 4h0m9 1h0m-2 1h0m-5 1h0m0 4h0m2 1h0m-3 2h0m15 0h0m-15 5h0m8 0h0m-9 1h0m12 3h0m4 0h0m-10 1h0m4 2h0m9 0h0m-12 1h0" stroke="#a08870" stroke-width="1.8" stroke-linecap="square"/>
<path d="M778 246h0m-14 2h0m2 0h0m12 0h0m-4 2h0m-10 1h0m8 3h0m-5 6h0m2 0h0m-2 1h0m3 0h0m0 7h0m4 0h0m-5 1h0m-6 1h0m7 0h0m5 2h0m2 0h0m-13 1h0m10 2h0m-11 1h0m10 1h0m-2 2h0m4 1h0m-12 1h0m1 0h0m9 3h0m3 0h0m-12 5h0m5 6h0m1 0h0m-6 2h0m9 0h0m-10 3h0m6 2h0m-2 1h0m3 1h0m10 8h0m-13 2h0m-3 2h0m9 0h0m2 2h0m-10 1h0m0 1h0m2 2h0m13 6h0m-4 1h0m4 0h0m-1 1h0m-16 5h0m5 2h0m8 3h0m1 2h0m2 1h0m-4 1h0m4 1h0m-8 1h0m1 3h0m4 1h0m-10 1h0m-1 1h0m15 1h0m-10 2h0m8 0h0m-13 1h0m5 1h0m-3 1h0m1 4h0m-4 2h0m11 1h0m-12 1h0m6 0h0m5 0h0m5 0h0m-3 2h0m-4 3h0m6 2h0m-4 1h0m-6 5h0m7 3h0m-9 1h0m2 3h0m-1 1h0m-3 2h0m1 4h0m9 3h0m-10 2h0m4 0h0m3 1h0m-8 4h0m15 0h0m-15 5h0m2 0h0m9 1h0m-10 2h0m5 2h0m-7 1h0m17 1h0m-7 1h0m-2 3h0m-5 1h0m-2 3h0m2 2h0m8 3h0m-11 1h0m16 3h0m-3 1h0m-9 1h0m11 6h0m-12 1h0m14 1h0m-8 4h0m-2 1h0m5 0h0m3 0h0m-7 1h0m5 0h0m-15 3h0m17 0h0m-4 1h0m-10 1h0m4 0h0m-4 3h0m6 3h0m7 1h0m-13 1h0m0 2h0m6 4h0m9 0h0m-16 3h0m3 1h0m-5 2h0m16 3h0m2 1h0m-11 1h0m4 1h0m4 1h0m-3 4h0m5 2h0m-13 4h0m4 0h0m5 1h0m-9 1h0m12 2h0m-3 1h0m-16 4h0m21 0h0m-18 3h0m5 1h0m4 4h0m0 1h0m2 0h0m-11 2h0m17 2h0m-7 1h0m-12 1h0m13 2h0m2 2h0m-16 1h0m11 0h0m-7 1h0m10 0h0m-2 1h0m4 1h0m-6 1h0m8 0h0m-20 1h0m7 0h0m11 0h0m-16 1h0m14 2h0m2 0h0m-2 1h0m1 0h0m-3 1h0m-6 1h0m-4 3h0m0 3h0m9 0h0m-8 3h0m5 1h0m1 1h0m-4 2h0m-3 2h0m-3 1h0m6 1h0m-5 1h0m2 0h0m3 2h0m1 0h0m-2 2h0m1 1h0m5 0h0m2 3h0m-6 2h0m14 0h0m-14 1h0m1 0h0m-6 1h0m7 3h0m-9 4h0m9 0h0m-7 1h0m-1 1h0m-2 2h0m6 2h0m6 1h0m3 1h0m0 1h0m-13 1h0m0 1h0m-1 1h0m7 4h0m2 5h0m-1 1h0m-9 1h0m14 2h0m-2 4h0m-13 1h0m1 0h0m17 1h0m1 1h0m-2 3h0m-18 1h0m9 0h0" stroke="#8a7058" stroke-width="1.8" stroke-linecap="square"/>
<path d="M768 247h0m-1 3h0m8 4h0m4 0h0m-1 3h0m2 0h0m-11 2h0m-6 3h0m5 0h0m2 2h0m-6 5h0m9 3h0m-7 1h0m11 0h0m-9 2h0m12 0h0m-7 1h0m-6 2h0m2 2h0m-2 2h0m8 0h0m5 1h0m-2 1h0m1 1h0m-5 2h0m0 1h0m5 4h0m-6 1h0m-7 1h0m9 0h0m-10 2h0m6 4h0m7 1h0m-12 1h0m8 1h0m-6 1h0m1 2h0m2 0h0m-2 2h0m8 0h0m-8 3h0m11 0h0m-15 2h0m3 0h0m11 1h0m-7 4h0m-9 3h0m4 0h0m11 4h0m3 1h0m-18 1h0m7 3h0m-4 1h0m12 0h0m-13 2h0m1 0h0m1 0h0m-1 1h0m3 1h0m9 1h0m-15 1h0m2 0h0m10 0h0m-3 2h0m8 0h0m0 5h0m-7 2h0m-3 3h0m-1 1h0m9 0h0m-4 1h0m-4 1h0m7 3h0m0 3h0m-7 1h0m2 1h0m-6 1h0m2 0h0m11 0h0m-2 1h0m-2 2h0m-2 4h0m-9 1h0m12 0h0m-13 2h0m6 2h0m-6 3h0m2 4h0m9 0h0m-9 1h0m8 0h0m4 0h0m1 4h0m-8 1h0m10 1h0m-2 2h0m-7 1h0m-8 1h0m2 0h0m9 2h0m0 10h0m1 0h0m-13 2h0m3 0h0m-2 2h0m10 2h0m-7 7h0m7 2h0m-4 1h0m7 1h0m-16 7h0m10 0h0m3 2h0m1 2h0m-14 1h0m4 3h0m-2 1h0m9 0h0m-9 1h0m0 2h0m16 2h0m0 2h0m-10 1h0m0 1h0m-3 2h0m5 3h0m5 2h0m1 2h0m-16 3h0m13 2h0m-11 3h0m12 1h0m-3 1h0m5 0h0m-12 5h0m-4 7h0m-2 3h0m1 0h0m5 0h0m-1 1h0m14 0h0m-13 1h0m5 0h0m8 0h0m-15 1h0m12 0h0m1 0h0m-7 3h0m10 0h0m-10 1h0m5 0h0m-14 1h0m1 3h0m7 0h0m11 0h0m-10 2h0m-1 1h0m-4 3h0m-6 1h0m3 0h0m12 2h0m-14 2h0m1 0h0m9 3h0m-3 2h0m7 0h0m2 4h0m-16 1h0m4 0h0m-2 4h0m13 1h0m1 3h0m1 3h0m1 0h0m-16 1h0m1 3h0m9 0h0m1 2h0m-4 2h0m-11 1h0m16 2h0m-2 1h0m-13 2h0m3 0h0m0 1h0m1 1h0m11 1h0m-3 1h0m6 1h0m1 0h0m-2 3h0m-19 2h0m14 1h0m0 2h0m-8 1h0m-1 1h0m3 0h0m10 0h0m-16 1h0m17 1h0m-4 2h0m-6 2h0m9 0h0m-8 2h0m-2 1h0m6 1h0m6 2h0m1 0h0m-3 2h0m-20 1h0m6 0h0m15 0h0m-18 1h0m20 1h0m-8 2h0m6 0h0m-9 1h0m9 1h0m-2 3h0m-6 4h0m0 1h0m-9 4h0m16 3h0m-7 1h0m-8 1h0m16 1h0m-17 2h0m-3 1h0m14 0h0m4 0h0m-2 1h0m2 0h0m-7 1h0m-12 1h0m22 2h0m-22 2h0m-1 1h0m16 0h0m-11 1h0m3 1h0m7 0h0m7 1h0" stroke="#e0d8d0" stroke-width="1.8" stroke-linecap="square"/>
<path d="M917 100h0m5 0h0m-4 2h0m7 0h0m5 0h0m-22 2h0m14 0h0m32 0h0m-50 2h0m4 0h0m12 0h0m26 0h0m-42 1h0m12 0h0m27 0h0m9 0h0m-26 1h0m4 0h0m-20 1h0m-6 1h0m8 0h0m-33 1h0m0 1h0m15 0h0m27 0h0m-19 1h0m24 0h0m25 0h0m-70 1h0m28 0h0m31 0h0m1 0h0m-58 1h0m4 0h0m10 0h0m30 0h0m15 0h0m16 0h0m-5 1h0m-78 1h0m10 0h0m8 0h0m20 0h0m10 0h0m-37 1h0m12 0h0m5 0h0m22 0h0m49 0h0m-107 1h0m19 0h0m18 0h0m1 0h0m18 0h0m21 0h0m1 0h0m12 0h0m26 0h0m-107 1h0m21 0h0m15 0h0m22 0h0m6 0h0m13 0h0m-80 1h0m15 0h0m33 0h0m17 0h0m35 0h0m-81 1h0m2 0h0m52 0h0m13 0h0m-81 1h0m2 0h0m3 0h0m24 0h0m6 0h0m54 0h0m-71 1h0m1 0h0m14 0h0m6 0h0m14 0h0m15 0h0m-71 1h0m90 0h0m2 0h0m27 0h0m-112 1h0m3 0h0m85 0h0m-102 1h0m10 0h0m24 0h0m14 0h0m-35 1h0m-6 1h0m34 0h0m7 0h0m-33 1h0m-13 1h0m11 0h0m31 0h0m49 0h0m27 0h0m-119 1h0m91 0h0m14 0h0m18 0h0m-78 1h0m1 0h0m49 0h0m16 0h0m7 0h0m-115 1h0m7 0h0m36 0h0m77 0h0m-123 1h0m40 0h0m80 0h0m-121 1h0m40 0h0m-31 1h0m37 1h0m33 0h0m22 0h0m-58 1h0m72 0h0m-63 1h0m38 0h0m28 0h0m1 0h0m-80 1h0m44 0h0m3 0h0m40 0h0m-88 1h0m5 0h0m34 0h0m1 1h0m6 0h0m28 1h0m2 0h0m13 1h0m-83 1h0m43 0h0m32 0h0m-45 1h0m17 0h0m31 0h0m-35 1h0m33 2h0m-48 1h0m5 0h0m8 0h0m22 0h0m-26 1h0m5 0h0m10 0h0m-27 1h0m18 0h0m7 0h0m-3 1h0m29 0h0m-51 1h0m3 1h0m9 1h0m12 0h0m-24 1h0m26 0h0m-10 1h0m4 0h0m39 0h0m-60 1h0m4 0h0m4 0h0m-2 1h0m7 0h0m10 0h0m-20 1h0m46 0h0m6 0h0m-53 1h0m30 1h0m12 0h0m16 0h0m-55 1h0m52 0h0m-6 1h0m11 0h0m-29 2h0m2 1h0m25 0h0m2 0h0m-25 1h0m-3 1h0m14 2h0m3 1h0m1 1h0m-3 3h0m9 0h0m-11 1h0m11 0h0m0 7h0m4 0h0m8 0h0m2 0h0m-20 1h0m3 0h0m14 1h0m-12 1h0m14 0h0m-2 1h0m-19 1h0m20 0h0m-19 1h0m-4 2h0m13 0h0m-28 1h0m1 0h0m16 0h0m23 0h0m1 1h0m-34 1h0m8 0h0m4 1h0m10 0h0m9 0h0m-31 1h0m14 0h0m-13 1h0m15 0h0m-22 1h0m1 0h0m18 0h0m4 0h0m12 0h0m-21 1h0m17 0h0m1 0h0m-27 1h0m11 0h0m-21 1h0m11 0h0m14 0h0m-27 1h0m7 0h0m12 0h0m2 0h0m1 0h0m26 0h0m-45 1h0m32 0h0m-30 1h0m39 0h0m-37 1h0m3 0h0m18 0h0m8 0h0m-34 1h0m13 0h0m-3 1h0m13 0h0m-11 1h0m1 0h0m1 0h0m7 0h0m11 0h0m-26 1h0m6 0h0m1 0h0m23 0h0m-38 1h0m8 0h0m4 0h0m10 0h0m-17 2h0m14 0h0m9 0h0m-22 1h0m14 0h0m-9 1h0m15 0h0m-22 1h0m5 0h0m1 0h0m2 0h0m3 0h0m12 0h0m-11 1h0m10 0h0m-26 1h0m1 0h0m1 0h0m7 0h0m-8 1h0m3 0h0m2 0h0m2 0h0m1 0h0m-6 1h0m8 0h0m6 0h0m-12 1h0m6 0h0m2 0h0m4 0h0m-9 1h0m4 0h0m0 1h0m5 0h0m2 0h0m7 0h0m-25 1h0m-1 1h0m16 0h0m8 0h0m3 0h0m-19 1h0m5 0h0m3 0h0m11 0h0m-26 1h0m8 0h0m5 0h0m10 0h0m-10 2h0m-7 1h0m3 0h0m1 0h0m11 0h0m-7 1h0m16 0h0m-18 1h0m2 0h0m37 0h0m-54 1h0m3 0h0m1 0h0m3 0h0m3 0h0m6 1h0m17 0h0m-35 1h0m11 0h0m3 0h0m1 0h0m1 0h0m19 0h0m17 0h0m2 0h0m-40 1h0m8 0h0m2 0h0m10 1h0m-28 1h0m1 0h0m5 0h0m30 0h0m12 0h0m-49 1h0m12 0h0m3 0h0m1 0h0m3 0h0m13 0h0m12 0h0m-27 1h0m14 0h0m-39 1h0m8 0h0m9 0h0m1 1h0m2 0h0m19 0h0m4 0h0m-45 1h0m1 0h0m4 0h0m19 0h0m3 0h0m12 0h0m5 0h0m17 0h0m-59 1h0m4 0h0m-5 1h0m22 0h0m-25 2h0m3 0h0m3 0h0m-8 1h0m7 0h0m37 0h0m4 0h0m4 0h0m-54 1h0m5 0h0m4 0h0m-2 1h0m2 1h0m42 0h0m-40 1h0m37 0h0m-40 1h0m1 0h0m4 0h0m20 0h0m-39 1h0m18 0h0m42 0h0m10 0h0m-69 1h0m37 0h0m-34 1h0m4 0h0m2 0h0m7 0h0m46 0h0m-46 1h0m2 0h0m36 0h0m14 0h0m-59 1h0m11 0h0m14 0h0m23 0h0m7 0h0m-56 1h0m2 1h0m-10 1h0m1 0h0m0 1h0m7 0h0m2 0h0m3 0h0m24 0h0m-18 1h0m3 0h0m15 0h0m25 0h0m-60 2h0m47 0h0m16 0h0m-67 1h0m10 0h0m1 0h0m6 1h0m23 0h0m9 0h0m-19 1h0m6 0h0m9 0h0m8 0h0m-42 1h0m2 0h0m1 0h0m1 0h0m3 0h0m-13 1h0m17 0h0m11 0h0m-30 1h0m9 0h0m-1 2h0m3 0h0m2 0h0m10 0h0m9 0h0m5 0h0m-12 1h0m-7 1h0m5 0h0m10 0h0m-20 1h0m-4 1h0m4 0h0m19 0h0m6 0h0m-42 1h0m12 0h0m10 0h0m15 0h0m-33 1h0m21 0h0m11 0h0m1 0h0m-39 1h0m26 0h0m3 2h0m10 0h0m13 0h0m-43 1h0m13 0h0m10 0h0m5 0h0m-9 1h0m7 0h0m4 0h0m-16 1h0m21 0h0m9 0h0m-57 1h0m32 0h0m4 0h0m14 0h0m-28 1h0m15 0h0m-3 1h0m22 0h0m-57 1h0m18 0h0m17 0h0m29 0h0m-47 3h0m0 1h0m-1 2h0m-2 1h0" stroke="#2a2830" stroke-width="1.6" stroke-linecap="square"/>
<path d="M919 99h0m-6 2h0m38 0h0m-43 2h0m2 0h0m1 0h0m-5 1h0m1 0h0m44 0h0m2 0h0m-32 1h0m28 0h0m-48 1h0m21 0h0m-21 1h0m14 0h0m21 0h0m20 0h0m13 0h0m-69 1h0m20 0h0m1 0h0m-38 1h0m24 0h0m11 0h0m4 0h0m2 0h0m2 0h0m10 0h0m22 0h0m-47 1h0m4 0h0m3 0h0m39 0h0m-62 1h0m1 0h0m10 0h0m5 0h0m9 0h0m-40 1h0m4 0h0m1 0h0m15 0h0m26 0h0m3 0h0m13 0h0m-60 1h0m4 0h0m1 0h0m23 0h0m11 0h0m14 0h0m-45 1h0m25 0h0m42 0h0m4 0h0m-79 1h0m5 0h0m1 0h0m13 0h0m2 0h0m8 0h0m7 0h0m11 0h0m18 0h0m22 0h0m-97 1h0m13 0h0m5 0h0m9 0h0m1 0h0m2 0h0m13 0h0m4 0h0m-19 1h0m21 0h0m11 0h0m1 0h0m14 0h0m31 0h0m-101 2h0m1 0h0m2 0h0m69 0h0m-76 1h0m4 0h0m11 0h0m56 0h0m12 0h0m-81 1h0m6 0h0m4 0h0m4 0h0m35 0h0m2 0h0m3 0h0m20 0h0m10 0h0m-83 1h0m10 0h0m14 0h0m23 0h0m41 0h0m-94 1h0m9 0h0m17 0h0m8 0h0m5 0h0m58 0h0m-86 1h0m14 0h0m2 0h0m61 0h0m15 1h0m19 0h0m2 0h0m-116 1h0m28 0h0m85 0h0m-111 1h0m4 0h0m30 0h0m52 0h0m8 0h0m-101 1h0m8 0h0m32 0h0m-38 1h0m6 1h0m-11 1h0m4 0h0m39 0h0m-48 1h0m16 0h0m-9 1h0m6 0h0m43 0h0m56 0h0m5 0h0m-68 1h0m65 0h0m-107 1h0m3 0h0m3 0h0m36 0h0m51 0h0m25 0h0m-120 1h0m46 0h0m4 0h0m-47 1h0m33 0h0m3 0h0m3 0h0m11 0h0m-11 1h0m0 1h0m5 0h0m31 0h0m-42 1h0m52 0h0m-53 1h0m3 0h0m11 0h0m26 0h0m4 0h0m2 0h0m5 0h0m42 0h0m-54 1h0m4 0h0m33 0h0m-75 1h0m50 0h0m24 0h0m-27 1h0m2 0h0m2 0h0m-48 1h0m43 0h0m-10 1h0m11 0h0m5 0h0m1 0h0m-45 1h0m46 0h0m14 0h0m7 0h0m-23 1h0m13 0h0m-30 1h0m8 0h0m11 0h0m1 0h0m2 0h0m-23 1h0m11 0h0m9 0h0m26 0h0m3 0h0m-46 1h0m1 0h0m6 0h0m11 0h0m2 0h0m-19 1h0m17 0h0m-25 1h0m2 0h0m10 0h0m3 0h0m-15 1h0m4 0h0m14 0h0m29 0h0m2 0h0m-46 1h0m13 0h0m8 0h0m4 0h0m20 0h0m10 0h0m4 0h0m-54 1h0m39 0h0m-47 1h0m8 0h0m11 0h0m-15 1h0m18 0h0m7 0h0m-18 1h0m32 0h0m13 0h0m5 0h0m-45 1h0m34 0h0m4 0h0m-42 1h0m7 0h0m27 0h0m9 0h0m-22 1h0m23 0h0m-52 1h0m2 0h0m-3 1h0m3 0h0m7 0h0m36 0h0m-11 1h0m-1 1h0m-2 1h0m1 4h0m25 0h0m-14 1h0m3 2h0m-1 2h0m2 1h0m7 3h0m-5 1h0m10 5h0m2 0h0m-14 1h0m3 0h0m2 1h0m3 0h0m-1 1h0m-9 2h0m12 0h0m13 0h0m-7 1h0m-30 1h0m12 0h0m11 1h0m-3 1h0m-23 2h0m41 0h0m-43 1h0m41 0h0m2 0h0m-41 1h0m-4 1h0m10 0h0m10 0h0m1 0h0m-10 1h0m32 0h0m-44 1h0m7 0h0m10 0h0m7 0h0m5 0h0m16 0h0m-42 2h0m26 0h0m-29 1h0m3 0h0m15 0h0m2 0h0m-21 1h0m7 0h0m14 0h0m1 0h0m6 0h0m-14 1h0m4 0h0m-8 1h0m5 0h0m3 0h0m22 0h0m-34 1h0m16 0h0m2 0h0m5 0h0m4 0h0m-32 1h0m22 0h0m5 0h0m-26 1h0m29 0h0m-15 1h0m-16 1h0m19 0h0m-23 1h0m16 0h0m1 0h0m5 0h0m1 0h0m-15 1h0m9 0h0m-15 1h0m3 1h0m23 0h0m-25 1h0m13 0h0m11 1h0m-24 1h0m10 0h0m8 0h0m4 0h0m-4 1h0m-14 1h0m25 0h0m-24 1h0m7 0h0m-11 2h0m9 0h0m2 0h0m-7 1h0m9 0h0m1 0h0m1 0h0m19 0h0m-31 1h0m1 0h0m1 0h0m11 0h0m15 0h0m-31 1h0m12 0h0m4 0h0m-12 1h0m1 0h0m6 0h0m30 0h0m-33 1h0m-12 1h0m7 0h0m12 0h0m10 0h0m-22 1h0m12 0h0m2 0h0m-21 1h0m4 0h0m6 0h0m6 0h0m17 0h0m-32 1h0m13 0h0m1 0h0m5 0h0m2 0h0m7 0h0m-19 1h0m10 0h0m10 0h0m-18 1h0m3 1h0m4 0h0m17 0h0m-27 1h0m1 0h0m5 0h0m-4 1h0m4 0h0m21 0h0m-26 1h0m26 0h0m3 0h0m-31 1h0m28 0h0m9 0h0m-39 1h0m28 0h0m-22 1h0m4 0h0m11 0h0m6 0h0m21 0h0m-62 1h0m2 0h0m25 0h0m8 0h0m1 0h0m-22 1h0m14 0h0m30 0h0m5 0h0m-39 1h0m1 0h0m-31 1h0m3 0h0m6 0h0m22 0h0m10 0h0m-32 1h0m48 0h0m-46 1h0m43 2h0m-54 1h0m49 0h0m13 0h0m1 1h0m-30 2h0m21 0h0m1 0h0m10 0h0m-62 1h0m1 0h0m30 0h0m-19 2h0m1 0h0m40 0h0m9 0h0m-58 1h0m5 0h0m19 0h0m-29 1h0m10 0h0m20 0h0m3 0h0m-39 1h0m66 0h0m-34 1h0m-21 2h0m5 0h0m-22 1h0m7 0h0m13 0h0m3 0h0m13 0h0m2 0h0m16 0h0m-38 1h0m15 0h0m27 0h0m-39 1h0m-18 1h0m7 0h0m18 0h0m1 0h0m18 0h0m3 0h0m-30 1h0m12 0h0m4 0h0m4 0h0m-26 1h0m28 1h0m18 0h0m-41 1h0m44 0h0m-47 1h0m46 0h0m-48 1h0m22 0h0m2 0h0m16 0h0m8 0h0m-24 1h0m6 0h0m-30 1h0m8 0h0m5 0h0m-5 2h0m20 0h0m0 1h0m-12 1h0m2 0h0m7 0h0m2 0h0m-28 1h0m1 0h0m3 0h0m19 0h0m6 0h0m1 0h0m-34 1h0m44 0h0m-47 1h0m3 0h0m26 0h0m6 0h0m9 0h0m-49 1h0m38 0h0m-34 1h0m20 0h0m17 0h0m13 0h0m-57 1h0m25 0h0m11 0h0m-36 1h0m13 0h0m30 0h0m17 0h0m6 0h0m-25 1h0m24 0h0m-27 1h0m-4 1h0m-14 3h0m31 0h0m-28 1h0m35 0h0m-42 1h0m37 0h0m6 1h0m-42 4h0m2 0h0m-217 305h0m2 0h0m-3 1h0m-31 1h0m26 0h0m2 0h0m4 0h0m15 0h0m6 0h0m-26 1h0m5 0h0m6 0h0m2 0h0m-37 1h0m22 0h0m-28 1h0m1 0h0m1 0h0m11 0h0m25 0h0m-15 1h0m29 0h0m-53 1h0m10 0h0m20 0h0m-19 1h0m10 0h0m6 0h0m25 0h0m-39 1h0m2 0h0m8 0h0m24 0h0m-9 1h0m13 0h0m2 0h0m-50 1h0m8 0h0m2 0h0m6 0h0m3 0h0m4 0h0m5 0h0m24 0h0m3 0h0m-41 1h0m23 0h0m-26 1h0m27 1h0m1 1h0m1 0h0m-7 1h0m1 0h0m20 0h0m-29 1h0m20 0h0m-37 1h0m12 0h0m4 0h0m23 0h0m-23 1h0m4 0h0m12 0h0m8 0h0m4 0h0m-43 1h0m14 0h0m28 0h0m-22 1h0m-12 1h0m1 0h0m9 0h0m5 1h0m1 0h0m1 0h0m7 1h0" stroke="#3a3040" stroke-width="1.6" stroke-linecap="square"/>
<path d="M932 102h0m22 1h0m-30 2h0m7 0h0m22 0h0m-38 1h0m5 0h0m20 0h0m1 0h0m-40 1h0m4 0h0m3 0h0m8 0h0m34 0h0m-27 1h0m-21 1h0m2 0h0m35 0h0m-38 1h0m1 0h0m4 0h0m9 0h0m24 0h0m21 0h0m-72 1h0m5 0h0m51 0h0m20 0h0m-56 1h0m12 0h0m5 0h0m50 0h0m-97 1h0m27 0h0m14 0h0m3 0h0m17 0h0m22 0h0m-79 1h0m3 0h0m35 0h0m11 0h0m25 0h0m18 0h0m-88 1h0m0 1h0m2 0h0m17 0h0m11 0h0m6 0h0m10 0h0m29 0h0m19 0h0m-99 1h0m2 0h0m11 0h0m7 0h0m11 0h0m50 0h0m-87 1h0m13 0h0m11 0h0m3 0h0m7 0h0m9 0h0m-50 1h0m24 0h0m27 0h0m30 0h0m-83 1h0m5 0h0m7 0h0m4 0h0m37 0h0m53 0h0m-100 1h0m8 0h0m4 0h0m5 0h0m31 0h0m2 0h0m-57 2h0m18 0h0m3 0h0m17 0h0m43 0h0m7 0h0m-81 1h0m36 0h0m42 0h0m15 0h0m11 1h0m16 0h0m-121 1h0m-3 1h0m35 0h0m56 0h0m-87 1h0m102 0h0m-106 1h0m90 0h0m12 0h0m-88 2h0m108 0h0m8 0h0m-38 2h0m6 0h0m15 0h0m-107 1h0m101 0h0m19 0h0m-120 2h0m5 0h0m-5 2h0m116 1h0m-5 1h0m-1 1h0m-5 3h0m-9 1h0m17 1h0m4 1h0m-7 2h0m5 2h0m-5 2h0m15 0h0m-18 2h0m16 0h0m-7 1h0m1 0h0m-11 3h0m4 1h0m11 0h0m6 0h0m-7 3h0m-4 2h0m12 0h0m-4 1h0m-1 2h0m0 1h0m-1 2h0m-17 1h0m15 4h0m-8 3h0m-1 3h0m13 3h0m1 0h0m-10 2h0m12 0h0m5 1h0m-6 1h0m9 0h0m-20 1h0m12 0h0m4 0h0m5 0h0m-26 2h0m11 0h0m10 0h0m-16 1h0m20 0h0m-13 1h0m7 0h0m-6 2h0m10 0h0m-25 1h0m-1 1h0m16 2h0m3 0h0m4 0h0m-17 1h0m20 0h0m2 0h0m-24 1h0m12 0h0m-16 1h0m10 1h0m8 0h0m5 0h0m6 0h0m-21 3h0m0 1h0m-8 2h0m2 0h0m2 0h0m9 0h0m7 0h0m-18 2h0m10 0h0m-4 1h0m1 1h0m3 2h0m-6 1h0m3 1h0m-4 1h0m10 7h0m2 1h0m0 3h0m16 2h0m-7 2h0m-16 3h0m3 0h0m16 0h0m-12 1h0m-3 1h0m5 0h0m3 0h0m11 0h0m1 0h0m-22 1h0m21 0h0m-29 4h0m12 0h0m-9 1h0m5 0h0m12 2h0m-11 1h0m-5 1h0m2 1h0m17 0h0m-6 5h0m9 0h0m-29 1h0m3 3h0m23 1h0m6 0h0m-16 1h0m-10 1h0m8 3h0m5 0h0m-28 1h0m1 0h0m36 0h0m-14 1h0m-5 4h0m0 1h0m4 1h0m-20 1h0m10 0h0m10 0h0m-8 2h0m8 0h0m-1 2h0m-16 1h0m6 0h0m9 0h0m-44 1h0m37 1h0m-3 7h0m2 0h0m-34 3h0m43 0h0m-4 1h0m-1 2h0m-5 2h0" stroke="#6a5a60" stroke-width="1.6" stroke-linecap="square"/>
<path d="M917 101h0m1 0h0m5 0h0m-10 1h0m14 0h0m-15 1h0m-3 1h0m13 1h0m34 0h0m-51 1h0m5 0h0m18 0h0m16 0h0m-28 2h0m19 0h0m9 0h0m-38 1h0m-13 1h0m26 0h0m10 1h0m-44 1h0m7 0h0m10 0h0m2 0h0m50 0h0m11 0h0m-82 1h0m9 0h0m9 0h0m1 0h0m18 0h0m18 0h0m4 0h0m-61 1h0m14 0h0m6 0h0m7 0h0m37 0h0m-52 1h0m10 0h0m10 0h0m46 0h0m16 0h0m-100 1h0m8 0h0m4 0h0m8 0h0m7 0h0m8 0h0m1 0h0m5 0h0m29 0h0m26 0h0m-85 1h0m16 0h0m10 0h0m-23 1h0m3 0h0m1 0h0m23 0h0m17 0h0m40 0h0m-84 1h0m22 0h0m30 0h0m32 0h0m-81 1h0m10 0h0m1 0h0m55 0h0m-72 1h0m2 0h0m14 0h0m26 0h0m56 0h0m5 1h0m3 0h0m-122 1h0m44 0h0m-37 1h0m6 0h0m2 0h0m45 0h0m43 0h0m6 0h0m12 0h0m-79 1h0m54 0h0m21 0h0m-122 1h0m44 0h0m11 0h0m67 0h0m-121 1h0m5 0h0m6 0h0m37 0h0m74 0h0m2 0h0m-122 1h0m1 0h0m5 0h0m93 0h0m5 0h0m-8 1h0m2 1h0m-53 1h0m6 0h0m39 0h0m33 0h0m-117 1h0m2 0h0m36 0h0m-42 1h0m43 0h0m4 0h0m1 0h0m3 0h0m54 0h0m6 0h0m-115 2h0m11 1h0m92 0h0m-59 1h0m6 0h0m2 0h0m31 0h0m-30 1h0m28 0h0m23 0h0m17 0h0m-68 1h0m1 0h0m-12 1h0m3 0h0m47 0h0m34 0h0m-77 1h0m32 0h0m5 0h0m-45 1h0m4 0h0m81 0h0m5 0h0m-89 1h0m39 0h0m14 0h0m-15 1h0m4 0h0m5 0h0m-10 1h0m16 0h0m-51 1h0m39 0h0m14 0h0m-50 1h0m29 0h0m3 0h0m4 0h0m3 0h0m25 1h0m10 0h0m-39 1h0m3 0h0m12 1h0m22 0h0m1 0h0m-32 1h0m-15 1h0m11 0h0m3 0h0m4 0h0m-20 3h0m5 0h0m9 0h0m3 0h0m7 0h0m29 0h0m6 0h0m-47 1h0m6 0h0m-3 1h0m9 0h0m-18 1h0m1 0h0m4 0h0m3 0h0m5 0h0m5 0h0m29 0h0m-35 1h0m38 0h0m-48 2h0m9 0h0m8 0h0m23 0h0m-20 1h0m6 0h0m2 1h0m-26 1h0m22 0h0m-25 1h0m26 0h0m4 0h0m-27 1h0m34 0h0m-3 1h0m-11 1h0m28 0h0m-25 3h0m12 0h0m3 3h0m7 2h0m-8 1h0m9 1h0m-10 1h0m4 2h0m12 4h0m-5 3h0m-4 1h0m1 3h0m7 0h0m3 0h0m4 1h0m3 1h0m-40 1h0m3 0h0m-5 1h0m16 0h0m8 1h0m2 0h0m-10 1h0m14 0h0m2 0h0m-28 1h0m39 1h0m2 2h0m1 0h0m-39 1h0m27 0h0m-10 1h0m12 0h0m-37 2h0m14 0h0m19 0h0m7 0h0m1 0h0m-15 1h0m-30 1h0m8 0h0m3 0h0m7 0h0m10 0h0m14 0h0m2 0h0m1 0h0m-34 1h0m16 0h0m-2 1h0m2 0h0m13 0h0m-25 1h0m8 0h0m-6 1h0m1 0h0m5 0h0m-22 1h0m4 0h0m2 0h0m11 0h0m1 0h0m3 0h0m-13 1h0m2 0h0m2 0h0m24 0h0m-36 1h0m6 0h0m-8 1h0m36 0h0m-28 1h0m7 0h0m-6 1h0m1 0h0m5 0h0m11 0h0m4 0h0m-14 1h0m11 0h0m-22 1h0m9 0h0m4 0h0m7 0h0m-12 1h0m7 0h0m10 0h0m-24 1h0m2 0h0m2 0h0m8 0h0m-7 1h0m18 0h0m-21 1h0m8 0h0m1 0h0m3 0h0m-17 1h0m17 0h0m3 0h0m2 0h0m-15 1h0m3 0h0m26 0h0m-10 1h0m-15 1h0m5 0h0m8 0h0m-22 1h0m2 0h0m6 0h0m2 0h0m13 0h0m-28 1h0m9 0h0m9 0h0m1 0h0m2 0h0m25 0h0m-38 1h0m3 0h0m12 0h0m23 0h0m-35 1h0m37 0h0m-47 1h0m13 0h0m-9 1h0m4 0h0m6 0h0m1 0h0m32 0h0m-43 1h0m8 0h0m6 0h0m19 0h0m-18 1h0m1 0h0m10 0h0m17 0h0m-45 1h0m6 0h0m39 0h0m-48 1h0m1 0h0m5 0h0m3 0h0m5 0h0m34 1h0m-41 1h0m9 0h0m25 0h0m1 0h0m4 0h0m-29 1h0m-21 1h0m11 0h0m11 0h0m1 0h0m35 0h0m-43 1h0m3 0h0m22 0h0m-40 1h0m1 0h0m9 0h0m6 0h0m3 0h0m28 0h0m-28 1h0m-25 1h0m28 0h0m9 0h0m9 0h0m14 0h0m-64 1h0m1 0h0m4 0h0m-4 1h0m27 0h0m1 0h0m17 1h0m12 0h0m-52 1h0m4 0h0m51 0h0m-58 1h0m10 0h0m-8 2h0m7 0h0m36 0h0m11 0h0m3 1h0m2 0h0m-62 3h0m57 0h0m-60 1h0m35 0h0m5 0h0m20 0h0m-61 1h0m7 0h0m14 0h0m32 0h0m8 0h0m-32 1h0m36 0h0m-60 1h0m7 0h0m6 0h0m-13 1h0m17 0h0m-22 1h0m16 0h0m4 0h0m27 0h0m-48 1h0m4 0h0m12 0h0m46 0h0m5 0h0m-55 1h0m8 0h0m-21 1h0m22 0h0m-23 1h0m26 0h0m21 0h0m-38 1h0m2 0h0m2 0h0m-14 1h0m7 0h0m3 2h0m10 0h0m37 0h0m-26 1h0m-7 1h0m17 0h0m-33 1h0m2 0h0m3 0h0m19 0h0m-24 1h0m15 0h0m2 0h0m-8 1h0m-3 1h0m22 0h0m1 0h0m6 0h0m-31 2h0m12 0h0m17 0h0m-24 1h0m17 1h0m11 0h0m-32 1h0m2 0h0m19 0h0m-35 1h0m30 0h0m3 0h0m4 0h0m9 0h0m-43 1h0m8 0h0m7 0h0m10 0h0m25 0h0m-32 1h0m8 0h0m19 0h0m6 0h0m-58 1h0m22 0h0m14 0h0m-20 1h0m20 0h0m-22 1h0m13 0h0m7 0h0m-3 1h0m3 1h0m26 2h0m-62 3h0m20 1h0m36 0h0" stroke="#4a4058" stroke-width="1.6" stroke-linecap="square"/>
<path d="M921 103h0m8 0h0m-23 2h0m14 0h0m9 0h0m1 0h0m1 0h0m-1 1h0m-20 1h0m8 1h0m13 0h0m6 0h0m21 0h0m-28 1h0m15 0h0m10 0h0m-32 1h0m47 0h0m-68 1h0m11 0h0m-27 1h0m14 0h0m16 0h0m2 0h0m5 0h0m13 0h0m19 0h0m-73 1h0m29 0h0m8 0h0m2 0h0m-39 1h0m3 0h0m1 0h0m10 0h0m2 0h0m16 0h0m38 0h0m3 0h0m-58 1h0m3 0h0m20 0h0m29 0h0m-64 1h0m52 0h0m-68 1h0m13 0h0m6 0h0m47 0h0m2 0h0m-62 1h0m3 0h0m33 0h0m11 0h0m55 0h0m-110 1h0m2 0h0m8 0h0m25 0h0m8 0h0m4 0h0m53 0h0m-95 1h0m12 0h0m21 0h0m9 0h0m2 0h0m27 0h0m-65 1h0m4 0h0m16 0h0m7 0h0m19 0h0m30 0h0m7 0h0m-70 1h0m65 0h0m18 0h0m-106 1h0m5 0h0m15 0h0m8 0h0m8 0h0m31 0h0m15 0h0m3 0h0m-58 1h0m21 0h0m-32 1h0m23 0h0m3 0h0m-43 1h0m12 0h0m-8 2h0m9 0h0m79 0h0m9 0h0m20 0h0m-120 1h0m8 0h0m99 0h0m6 0h0m13 0h0m-10 1h0m8 0h0m3 0h0m-127 1h0m2 1h0m117 0h0m6 0h0m-120 1h0m8 0h0m-16 1h0m-1 1h0m6 0h0m105 0h0m10 0h0m-115 1h0m3 0h0m93 0h0m-87 2h0m92 1h0m23 1h0m-20 2h0m9 0h0m2 2h0m8 0h0m-6 1h0m-18 1h0m3 2h0m19 2h0m-2 3h0m5 2h0m-3 1h0m-4 9h0m8 0h0m-15 2h0m13 0h0m-11 1h0m2 1h0m4 4h0m8 0h0m-1 1h0m-6 1h0m2 0h0m-8 2h0m6 0h0m-2 4h0m2 0h0m7 4h0m-2 1h0m-1 2h0m7 0h0m2 0h0m-9 2h0m7 3h0m8 0h0m2 0h0m-13 3h0m5 0h0m3 1h0m1 0h0m3 0h0m-25 1h0m5 0h0m13 3h0m7 1h0m-25 2h0m15 0h0m12 0h0m-17 1h0m5 0h0m4 0h0m4 0h0m-6 2h0m-8 1h0m-6 1h0m7 0h0m-7 1h0m12 1h0m-16 4h0m1 1h0m6 2h0m2 12h0m8 0h0m11 1h0m-14 1h0m13 2h0m-7 1h0m7 0h0m-17 1h0m13 1h0m-1 1h0m9 0h0m-15 1h0m11 0h0m-8 1h0m8 2h0m-7 2h0m-11 2h0m1 1h0m-1 1h0m2 0h0m5 1h0m5 0h0m7 0h0m-16 1h0m7 1h0m-9 2h0m2 1h0m12 2h0m-5 2h0m3 0h0m-29 1h0m31 0h0m-33 1h0m10 0h0m-5 1h0m6 1h0m24 0h0m4 0h0m-32 1h0m30 1h0m-28 1h0m21 0h0m-20 1h0m-7 3h0m12 1h0m5 0h0m-3 1h0m1 1h0m-16 2h0m-3 1h0m21 1h0m-15 1h0m2 0h0m17 3h0m-48 3h0m33 0h0m-37 1h0m-5 1h0m46 0h0m4 0h0m-54 4h0m50 0h0m-46 2h0m6 0h0m12 0h0m1 1h0m-17 2h0m6 0h0m42 3h0m-44 2h0" stroke="#18141c" stroke-width="1.6" stroke-linecap="square"/>
<path d="M918 99h0m-1 1h0m-6 1h0m6 1h0m3 0h0m-14 2h0m4 0h0m19 0h0m-27 1h0m14 0h0m26 0h0m-31 1h0m-7 1h0m13 0h0m5 0h0m34 1h0m-58 1h0m14 0h0m7 0h0m11 0h0m21 0h0m-68 1h0m19 0h0m23 0h0m-32 1h0m13 0h0m21 0h0m17 0h0m10 0h0m-68 1h0m8 0h0m24 0h0m4 0h0m24 0h0m6 0h0m5 0h0m12 0h0m-58 1h0m4 0h0m15 0h0m13 0h0m3 0h0m9 0h0m-73 1h0m70 0h0m-73 1h0m9 0h0m62 0h0m13 0h0m13 0h0m-102 1h0m5 0h0m28 0h0m5 0h0m11 0h0m15 0h0m22 0h0m-89 1h0m7 0h0m27 0h0m4 0h0m20 0h0m3 0h0m16 0h0m-77 1h0m1 0h0m10 0h0m21 0h0m21 0h0m4 0h0m13 0h0m-74 1h0m16 0h0m7 0h0m2 0h0m84 0h0m-108 2h0m4 0h0m17 0h0m3 0h0m16 0h0m9 0h0m1 0h0m23 0h0m-64 1h0m6 0h0m41 0h0m31 0h0m3 0h0m4 0h0m17 0h0m-69 1h0m84 0h0m-121 1h0m74 0h0m10 0h0m-91 1h0m100 0h0m-102 3h0m1 1h0m105 0h0m20 0h0m-20 1h0m1 1h0m-92 2h0m113 0h0m-115 2h0m101 0h0m-105 1h0m97 0h0m19 0h0m-114 2h0m115 0h0m-23 1h0m5 0h0m7 0h0m11 0h0m5 0h0m-22 3h0m5 2h0m8 0h0m-11 1h0m2 0h0m19 6h0m-2 1h0m-1 1h0m5 0h0m-2 4h0m-7 1h0m-1 2h0m1 0h0m-3 1h0m-1 3h0m15 1h0m-11 3h0m8 0h0m-14 2h0m4 0h0m10 0h0m-14 1h0m3 2h0m-4 1h0m-2 1h0m4 1h0m10 0h0m-14 1h0m13 4h0m4 4h0m-8 3h0m-4 1h0m6 2h0m3 2h0m-7 1h0m20 0h0m-13 1h0m5 0h0m7 0h0m-9 1h0m-8 1h0m6 0h0m6 3h0m10 3h0m-1 2h0m-21 1h0m9 0h0m-6 2h0m-3 1h0m2 0h0m-3 1h0m13 0h0m-14 1h0m11 0h0m4 1h0m-7 3h0m-4 2h0m-5 3h0m12 7h0m7 3h0m-17 1h0m18 1h0m4 0h0m-16 1h0m-4 1h0m9 0h0m-9 1h0m3 0h0m20 0h0m-11 1h0m-12 1h0m6 3h0m8 1h0m-16 1h0m15 0h0m-8 1h0m5 3h0m5 1h0m8 1h0m-21 1h0m0 2h0m16 0h0m-4 1h0m-10 1h0m2 2h0m1 0h0m-14 1h0m18 0h0m-20 1h0m3 1h0m18 1h0m13 1h0m-36 1h0m5 0h0m-11 1h0m28 0h0m-12 1h0m-9 2h0m8 3h0m-14 1h0m3 2h0m4 1h0m2 1h0m14 0h0m-13 2h0m14 0h0m-8 1h0m-17 1h0m25 0h0m-13 1h0m-35 2h0m-6 3h0m37 2h0m8 0h0m-43 2h0m49 0h0m-50 2h0m10 0h0m35 0h0m-9 4h0m4 0h0m1 1h0m-37 2h0m-1 2h0m5 1h0" stroke="#201828" stroke-width="1.6" stroke-linecap="square"/>
<path d="M924 100h0m-12 1h0m-4 1h0m3 0h0m8 0h0m29 0h0m-36 1h0m18 0h0m-25 1h0m23 0h0m3 0h0m-26 1h0m5 0h0m3 1h0m3 0h0m-7 1h0m18 0h0m-30 1h0m5 0h0m7 0h0m8 0h0m10 0h0m5 0h0m23 0h0m-62 1h0m42 0h0m12 0h0m-38 1h0m11 0h0m2 0h0m30 0h0m7 0h0m-55 1h0m4 0h0m10 0h0m42 0h0m-57 1h0m19 0h0m1 0h0m6 0h0m2 0h0m4 0h0m-52 1h0m4 0h0m8 0h0m22 0h0m50 0h0m-85 1h0m1 0h0m4 1h0m15 0h0m1 0h0m18 0h0m23 0h0m-68 1h0m40 0h0m41 0h0m1 0h0m-73 1h0m15 0h0m28 0h0m29 0h0m15 0h0m-86 1h0m15 0h0m25 0h0m1 0h0m12 0h0m6 0h0m-74 1h0m4 0h0m9 0h0m2 0h0m1 0h0m13 0h0m45 0h0m14 0h0m-70 1h0m6 0h0m25 0h0m12 0h0m-43 1h0m10 0h0m12 0h0m4 0h0m8 0h0m25 0h0m12 0h0m-93 1h0m1 0h0m1 0h0m5 0h0m9 0h0m11 0h0m8 0h0m30 0h0m22 0h0m15 0h0m11 0h0m-111 1h0m4 0h0m90 0h0m-82 1h0m2 0h0m26 0h0m57 0h0m13 0h0m-107 1h0m7 0h0m33 0h0m55 0h0m-86 1h0m1 0h0m20 0h0m79 0h0m4 0h0m-119 1h0m9 0h0m122 0h0m-132 1h0m8 0h0m92 0h0m3 0h0m3 0h0m-101 1h0m6 0h0m-9 2h0m6 1h0m3 0h0m4 0h0m-13 1h0m1 1h0m-1 1h0m6 0h0m1 0h0m5 0h0m1 0h0m-1 2h0m88 5h0m23 0h0m-14 1h0m16 0h0m-11 1h0m10 0h0m-24 1h0m20 2h0m-2 3h0m-1 2h0m6 1h0m-7 3h0m3 5h0m-4 1h0m19 1h0m-4 2h0m-16 1h0m4 0h0m0 2h0m-1 2h0m-2 1h0m0 1h0m5 0h0m3 1h0m-10 2h0m16 1h0m-8 3h0m0 8h0m7 0h0m7 0h0m-16 1h0m9 0h0m5 0h0m2 0h0m-11 3h0m4 0h0m-6 1h0m11 0h0m-15 1h0m5 1h0m16 0h0m4 1h0m-14 3h0m4 0h0m8 0h0m-14 1h0m8 0h0m-9 1h0m-8 1h0m14 0h0m5 1h0m-12 1h0m8 0h0m-12 1h0m8 1h0m14 1h0m-13 1h0m1 0h0m-17 1h0m7 0h0m12 0h0m-12 1h0m11 0h0m6 0h0m-19 2h0m0 2h0m6 1h0m-8 3h0m16 11h0m3 0h0m-1 1h0m-14 3h0m0 2h0m10 1h0m8 0h0m4 0h0m-13 1h0m16 0h0m-2 1h0m-22 4h0m1 2h0m16 0h0m7 0h0m-15 1h0m-9 2h0m2 5h0m21 0h0m-17 1h0m15 2h0m2 0h0m-15 1h0m1 0h0m15 0h0m-9 2h0m8 1h0m1 0h0m-31 2h0m16 0h0m-21 1h0m4 0h0m-6 2h0m1 1h0m32 0h0m1 0h0m-1 1h0m-33 2h0m31 0h0m-24 4h0m3 0h0m-4 4h0m-1 1h0m4 0h0m14 0h0m-10 2h0m-45 2h0m43 1h0m-45 1h0m2 0h0m-4 2h0m56 0h0m-52 1h0m-4 1h0m1 0h0m56 0h0m-45 1h0m-13 1h0m6 0h0m40 1h0m5 0h0m-7 2h0m-36 1h0m1 0h0m38 0h0m-3 1h0m-32 2h0m40 2h0" stroke="#3a3a50" stroke-width="1.6" stroke-linecap="square"/>
<path d="M964 97h0m2 1h0m-29 7h0m55 2h0m11 1h0m-65 16h0m4 0h0m11 3h0m0 3h0m-11 7h0m61 1h0m-73 6h0m8 0h0m4 14h0m26 0h0m-17 1h0m-3 6h0m20 8h0m13 4h0m26 1h0m24 128h0m2 1h0m-5 1h0m4 2h0m6 1h0m-2 1h0m3 1h0m40 14h0m-1 1h0m1 0h0m-115 1h0m1 0h0m113 0h0m2 0h0m-3 2h0m5 0h0m-9 1h0m7 0h0m-118 1h0m1 0h0m1 0h0m114 0h0m-2 1h0m-116 1h0m6 0h0m-1 1h0m-4 1h0m3 0h0m177 24h0m0 1h0m0 1h0m3 0h0m-2 2h0m-96 1h0m96 0h0m1 1h0m1 1h0m-100 1h0m2 1h0m0 2h0m1 1h0m0 1h0" stroke="#5a4a48" stroke-width="1.4" stroke-linecap="square"/>
<path d="M988 97h0m-9 1h0m-38 4h0m60 1h0m0 2h0m-29 11h0m-26 12h0m30 4h0m-32 10h0m-6 7h0m67 9h0m-64 1h0m21 0h0m-21 2h0m58 13h0m-29 1h0m37 3h0" stroke="#3a3040" stroke-width="1.4" stroke-linecap="square"/>
<path d="M945 103h0m13 2h0m37 1h0m-14 5h0m-18 1h0m7 0h0m15 0h0m-24 1h0m13 0h0m-11 2h0m22 2h0m-35 4h0m30 0h0m10 3h0m-33 1h0m22 8h0m-12 4h0m-29 8h0m58 3h0m-54 4h0m19 8h0m11 0h0m-1 2h0m9 1h0m17 2h0m-25 1h0m18 4h0m-13 4h0m8 1h0m3 0h0m-35 2h0" stroke="#3a3a50" stroke-width="1.4" stroke-linecap="square"/>
<path d="M961 96h0m-19 21h0m-4 7h0m14 1h0m9 0h0m45 7h0m-67 14h0m62 4h0m-10 4h0m1 0h0m-3 2h0m14 2h0m-30 4h0m23 6h0m4 0h0m-42 7h0m38 1h0m-36 1h0" stroke="#201828" stroke-width="1.4" stroke-linecap="square"/>
<path d="M981 96h0m-9 7h0m38 7h0m-71 3h0m57 1h0m-40 1h0m41 2h0m7 7h0m-12 14h0m4 8h0m-13 2h0m17 1h0m-69 5h0m16 0h0m30 0h0m-29 1h0m52 2h0m-64 3h0m54 6h0m0 2h0m-14 5h0m-30 5h0m36 0h0" stroke="#18141c" stroke-width="1.4" stroke-linecap="square"/>
<path d="M1007 97h0m-64 3h0m38 1h0m26 12h0m-54 3h0m-1 12h0m27 0h0m-2 2h0m22 18h0m-6 4h0m-48 2h0m38 5h0m-3 5h0m23 4h0" stroke="#4a4058" stroke-width="1.4" stroke-linecap="square"/>
<path d="M915 124h0m-6 2h0m10 2h0m2 2h0m-6 1h0m0 1h0m-5 1h0m10 0h0m0 1h0m-3 2h0m31 0h0m-38 1h0m2 0h0m9 0h0m-15 1h0m1 0h0m11 0h0m-9 1h0m47 0h0m-48 1h0m7 0h0m4 0h0m38 0h0m-10 2h0m12 0h0m-51 1h0m36 0h0m1 1h0m2 0h0m-4 2h0m12 0h0m2 0h0m5 0h0m-18 2h0m2 1h0m6 0h0m2 0h0m-4 1h0m-6 1h0m5 0h0m-2 1h0m12 1h0m3 2h0m-22 1h0m1 0h0m-5 1h0m13 0h0m-12 1h0m20 1h0m4 0h0m-24 1h0m15 0h0m-14 1h0m8 0h0m17 1h0m1 0h0m7 1h0m3 0h0m-35 1h0m29 0h0m-23 1h0m22 0h0m7 0h0m3 1h0m4 0h0m-5 1h0m-6 3h0m-2 22h0m0 2h0m-3 2h0m2 0h0m0 1h0m-2 1h0m2 0h0m3 0h0m1 0h0m2 1h0m-4 1h0m5 3h0m-14 2h0m23 0h0m2 0h0m1 0h0m-8 1h0m-19 1h0m7 0h0m6 0h0m4 0h0m3 1h0m6 0h0m-4 1h0m6 0h0m-12 1h0m2 0h0m3 1h0m8 0h0m-22 1h0m2 0h0m-1 1h0m1 0h0m12 0h0m6 0h0m-13 1h0m1 0h0m6 0h0m-18 1h0m3 0h0m8 0h0m-7 1h0m3 0h0m-6 1h0m4 0h0m1 0h0m2 0h0m5 0h0m4 0h0m3 0h0m2 0h0m-18 1h0m5 0h0m7 1h0m-7 1h0m2 0h0m0 1h0m-3 1h0m14 0h0m-23 1h0m20 0h0m5 0h0m-21 1h0m10 0h0m-7 1h0m3 0h0m3 0h0m2 0h0m9 0h0m1 0h0m-22 1h0m16 0h0m-18 1h0m3 0h0m3 0h0m8 0h0m4 1h0m8 0h0m-28 1h0m9 0h0m4 0h0m7 0h0m4 0h0m-21 1h0m13 0h0m1 0h0m2 0h0m1 0h0m5 0h0m2 0h0m-23 1h0m7 0h0m1 0h0m1 0h0m6 0h0m3 0h0m5 0h0m-12 2h0m-12 1h0m10 1h0m2 0h0m2 0h0m-14 1h0m1 0h0m2 0h0m7 0h0m8 1h0m-14 1h0m3 0h0m-10 1h0m11 0h0m3 0h0m3 0h0m1 0h0m-30 2h0m25 0h0m4 0h0m3 0h0m-32 1h0m18 0h0m6 0h0m-5 1h0m9 0h0m-30 1h0m29 0h0m2 0h0m-22 1h0m2 2h0m19 0h0m2 0h0m1 0h0m-20 1h0m-10 1h0m7 0h0m-7 2h0m-7 2h0m3 1h0m15 1h0m4 1h0m-20 1h0m2 0h0m7 0h0m4 0h0m6 0h0m-14 1h0m-6 1h0m15 0h0m4 0h0m-23 1h0m19 0h0m-21 1h0m1 0h0m15 1h0m5 0h0m-2 1h0m5 0h0m-24 1h0m7 0h0m18 1h0m-21 1h0m-2 1h0m13 0h0m6 0h0m-15 1h0m11 0h0m8 0h0m2 1h0m-21 1h0m12 1h0m4 0h0m-2 1h0m15 1h0m-17 1h0m9 0h0m-17 1h0m19 0h0m9 0h0m-10 2h0m-14 2h0m5 0h0m10 0h0m9 0h0m1 1h0m-23 2h0m8 0h0m5 0h0m8 0h0m-19 1h0m19 0h0m-7 2h0m-3 1h0m5 0h0m-1 1h0m6 0h0m-11 2h0m4 0h0" stroke="#605870" stroke-width="1.6" stroke-linecap="square"/>
<path d="M909 125h0m5 0h0m-5 3h0m3 0h0m2 1h0m-3 1h0m6 3h0m-6 1h0m3 0h0m-1 1h0m-7 2h0m42 0h0m1 0h0m-39 1h0m7 0h0m32 3h0m1 0h0m10 0h0m-16 1h0m12 0h0m2 0h0m-46 1h0m34 0h0m-3 2h0m4 0h0m16 1h0m-23 1h0m8 2h0m-2 1h0m5 0h0m4 0h0m8 3h0m-28 1h0m27 0h0m-21 2h0m20 0h0m-13 1h0m-5 1h0m11 0h0m-9 1h0m14 1h0m-22 1h0m4 0h0m14 0h0m7 0h0m9 0h0m-34 1h0m5 1h0m5 0h0m10 0h0m7 0h0m10 0h0m-16 1h0m13 0h0m3 0h0m-4 1h0m2 0h0m-26 2h0m21 0h0m9 1h0m-7 3h0m1 23h0m-5 1h0m3 0h0m2 1h0m3 0h0m1 0h0m-8 1h0m-1 1h0m2 1h0m-4 3h0m20 0h0m-17 1h0m4 0h0m15 1h0m-10 1h0m-2 1h0m-9 1h0m4 0h0m9 0h0m-13 1h0m-1 1h0m26 0h0m-20 1h0m18 2h0m-22 1h0m11 0h0m2 0h0m2 0h0m2 0h0m3 1h0m-17 1h0m6 0h0m7 0h0m4 0h0m3 0h0m-26 1h0m16 0h0m6 0h0m-20 1h0m20 0h0m-21 1h0m22 0h0m2 0h0m-13 1h0m-10 1h0m2 1h0m16 0h0m-15 1h0m1 0h0m-2 1h0m13 0h0m5 0h0m-21 1h0m5 0h0m-1 1h0m-1 1h0m2 0h0m13 0h0m-18 1h0m11 0h0m8 0h0m-20 1h0m6 0h0m4 0h0m-10 1h0m2 1h0m-5 1h0m12 0h0m1 0h0m5 0h0m1 0h0m-14 1h0m-4 1h0m11 1h0m13 0h0m-25 1h0m8 1h0m14 1h0m-18 1h0m4 0h0m9 0h0m2 0h0m1 0h0m-12 1h0m1 0h0m10 0h0m-5 1h0m1 0h0m1 0h0m-16 1h0m14 0h0m7 0h0m-29 1h0m6 0h0m-6 1h0m19 0h0m-22 1h0m20 0h0m5 0h0m3 0h0m-29 1h0m18 0h0m12 0h0m1 0h0m-2 1h0m-18 1h0m17 0h0m-30 1h0m2 0h0m13 1h0m-14 2h0m13 1h0m-16 1h0m4 0h0m1 0h0m1 0h0m-6 1h0m11 1h0m6 0h0m-4 1h0m7 0h0m-18 1h0m-2 1h0m17 0h0m3 0h0m2 0h0m-21 1h0m14 0h0m-3 1h0m-4 1h0m3 1h0m-15 1h0m18 0h0m-2 1h0m5 1h0m-14 1h0m13 1h0m-14 1h0m7 0h0m5 0h0m-10 1h0m5 0h0m-5 1h0m12 0h0m-17 1h0m18 0h0m4 0h0m-6 2h0m-13 1h0m8 0h0m12 0h0m4 0h0m-20 1h0m15 0h0m7 1h0m2 0h0m2 2h0m-11 1h0m-11 1h0m14 0h0m-11 1h0m7 0h0m10 0h0m-19 1h0m3 0h0m10 0h0m5 0h0m-15 1h0m10 1h0m4 0h0m-7 3h0m9 0h0m-8 3h0m0 1h0" stroke="#3a3448" stroke-width="1.6" stroke-linecap="square"/>
<path d="M913 125h0m1 0h0m4 0h0m-2 1h0m-3 2h0m-4 2h0m2 0h0m7 0h0m1 0h0m-8 1h0m2 0h0m1 2h0m-2 1h0m9 0h0m-8 1h0m1 0h0m4 0h0m-8 2h0m3 0h0m5 0h0m4 0h0m-9 1h0m2 0h0m34 0h0m8 1h0m-46 1h0m40 1h0m-2 1h0m-39 1h0m2 0h0m-5 1h0m6 0h0m38 0h0m11 0h0m-11 2h0m11 0h0m-7 3h0m1 0h0m3 0h0m-5 1h0m-12 1h0m10 0h0m5 0h0m7 1h0m-20 1h0m13 0h0m-20 1h0m8 0h0m-2 1h0m7 0h0m14 0h0m-20 1h0m7 0h0m-2 1h0m7 0h0m-20 1h0m2 0h0m6 0h0m9 0h0m13 0h0m-23 1h0m5 0h0m6 0h0m5 0h0m-15 1h0m9 0h0m-14 1h0m1 0h0m3 0h0m19 0h0m-4 1h0m2 0h0m3 0h0m14 0h0m-30 1h0m0 1h0m-8 1h0m5 0h0m27 3h0m-2 24h0m3 2h0m-1 5h0m-6 1h0m4 1h0m-5 1h0m4 0h0m4 0h0m4 0h0m1 0h0m7 0h0m-4 1h0m-17 1h0m17 0h0m7 0h0m-24 2h0m23 1h0m-24 1h0m12 0h0m3 0h0m2 0h0m3 1h0m-23 1h0m10 0h0m-10 1h0m4 1h0m1 0h0m8 1h0m4 0h0m13 0h0m-24 1h0m10 0h0m3 0h0m4 0h0m-8 1h0m14 0h0m-26 1h0m-2 1h0m5 0h0m11 0h0m-11 1h0m4 0h0m13 0h0m-17 1h0m4 0h0m4 0h0m3 0h0m2 0h0m5 0h0m-22 1h0m13 0h0m15 0h0m-11 1h0m4 0h0m2 0h0m-20 1h0m12 0h0m-15 1h0m11 0h0m6 0h0m1 0h0m-14 1h0m24 0h0m-21 1h0m3 0h0m3 0h0m4 0h0m-15 1h0m6 0h0m1 0h0m4 0h0m5 0h0m3 0h0m-18 1h0m13 0h0m3 0h0m-10 1h0m9 0h0m9 0h0m-17 1h0m5 0h0m-1 1h0m4 0h0m3 0h0m-12 1h0m1 0h0m7 0h0m-17 1h0m11 0h0m1 0h0m1 0h0m4 0h0m2 0h0m-10 1h0m1 0h0m2 0h0m-12 1h0m3 0h0m8 0h0m7 0h0m5 0h0m-17 1h0m4 0h0m4 0h0m5 0h0m-3 2h0m4 0h0m2 2h0m-3 1h0m-24 1h0m7 0h0m13 0h0m-29 1h0m18 0h0m2 0h0m4 0h0m4 0h0m-5 1h0m3 0h0m-8 1h0m8 0h0m1 1h0m4 0h0m-28 1h0m6 0h0m-7 1h0m8 0h0m-2 1h0m6 1h0m-17 3h0m16 0h0m1 0h0m-4 1h0m2 0h0m2 0h0m-8 2h0m2 0h0m8 1h0m-16 1h0m16 0h0m-24 2h0m6 0h0m6 1h0m6 0h0m8 0h0m-16 1h0m2 0h0m3 0h0m10 0h0m-3 1h0m2 0h0m-21 1h0m1 0h0m22 0h0m-20 1h0m-1 1h0m3 0h0m16 0h0m-25 1h0m13 1h0m6 0h0m11 1h0m-5 1h0m2 0h0m-16 1h0m12 0h0m8 0h0m-14 1h0m-12 1h0m2 0h0m25 0h0m1 0h0m-14 1h0m-11 1h0m8 1h0m10 1h0m-3 1h0m6 0h0m10 0h0m-25 1h0m3 0h0m1 0h0m2 0h0m-7 1h0m4 0h0m8 1h0m-10 1h0m4 0h0m13 0h0m-17 1h0m1 0h0m8 0h0m-6 2h0m20 0h0m-2 1h0m-16 1h0m9 0h0m1 0h0m-6 1h0m9 0h0m4 0h0m-6 1h0m3 0h0m3 0h0m-11 1h0m6 0h0m6 0h0" stroke="#e8e8f0" stroke-width="1.6" stroke-linecap="square"/>
<path d="M911 124h0m5 0h0m-4 1h0m0 1h0m6 0h0m-6 1h0m1 1h0m-1 1h0m1 0h0m3 1h0m-1 2h0m0 1h0m0 1h0m2 0h0m2 0h0m-12 3h0m5 0h0m-5 1h0m4 0h0m38 0h0m-44 1h0m6 0h0m44 1h0m-42 1h0m31 0h0m15 0h0m-10 2h0m-5 1h0m8 0h0m1 3h0m-11 1h0m14 0h0m4 0h0m1 1h0m-20 1h0m17 0h0m1 0h0m6 0h0m-11 1h0m-12 1h0m13 0h0m-7 1h0m8 0h0m-17 1h0m10 0h0m16 1h0m-23 1h0m3 0h0m14 0h0m-22 2h0m10 0h0m12 0h0m2 0h0m4 0h0m-23 1h0m6 0h0m4 0h0m-16 1h0m8 0h0m18 0h0m-22 1h0m10 0h0m-5 1h0m5 0h0m28 0h0m-17 1h0m6 4h0m13 0h0m-11 1h0m11 1h0m-12 26h0m-3 2h0m3 0h0m0 1h0m6 0h0m-5 1h0m2 1h0m1 0h0m1 0h0m1 0h0m-3 2h0m12 0h0m-13 1h0m11 0h0m-15 1h0m-6 3h0m6 0h0m9 0h0m1 0h0m2 0h0m1 0h0m-14 1h0m15 0h0m1 0h0m-22 2h0m7 0h0m21 1h0m-26 1h0m15 0h0m-4 1h0m8 0h0m-14 1h0m9 0h0m2 0h0m1 0h0m-12 1h0m2 1h0m8 0h0m5 0h0m-4 1h0m2 0h0m7 0h0m2 0h0m-25 1h0m2 0h0m0 1h0m22 0h0m-9 1h0m-9 1h0m6 0h0m-13 1h0m1 0h0m14 0h0m7 0h0m2 0h0m-23 1h0m4 0h0m4 0h0m3 0h0m4 0h0m8 0h0m-10 1h0m-13 1h0m9 0h0m3 0h0m9 0h0m5 0h0m-16 1h0m3 0h0m4 0h0m-20 1h0m10 0h0m-9 1h0m12 0h0m-8 1h0m4 0h0m10 0h0m5 0h0m-13 1h0m7 0h0m8 0h0m1 0h0m-19 1h0m7 0h0m1 0h0m3 0h0m-1 1h0m-20 1h0m2 0h0m8 0h0m2 0h0m6 0h0m3 0h0m1 0h0m2 0h0m2 1h0m-13 1h0m7 0h0m-14 1h0m1 0h0m9 0h0m2 0h0m1 0h0m4 0h0m-7 1h0m7 0h0m-9 2h0m2 0h0m3 0h0m2 0h0m1 0h0m1 1h0m-27 1h0m7 0h0m4 0h0m6 0h0m-24 1h0m6 0h0m9 1h0m1 0h0m8 0h0m6 0h0m-5 1h0m3 0h0m2 0h0m1 0h0m-24 1h0m-7 2h0m5 1h0m24 0h0m2 0h0m-19 1h0m-11 1h0m5 0h0m-8 1h0m2 1h0m7 0h0m-5 1h0m4 0h0m10 0h0m-19 1h0m3 0h0m16 0h0m-11 1h0m-1 1h0m0 1h0m8 0h0m-18 1h0m2 0h0m1 0h0m5 0h0m4 0h0m-5 2h0m13 0h0m3 0h0m-16 2h0m11 0h0m-8 1h0m5 0h0m5 0h0m-22 2h0m1 1h0m7 0h0m5 0h0m-4 1h0m2 0h0m-4 1h0m5 0h0m4 0h0m8 0h0m2 1h0m-15 1h0m20 0h0m-15 1h0m6 0h0m8 0h0m-22 1h0m6 2h0m14 0h0m-14 1h0m13 0h0m2 0h0m-19 1h0m10 0h0m6 1h0m8 0h0m-23 1h0m12 0h0m15 0h0m-17 1h0m4 1h0m-12 1h0m2 0h0m9 0h0m-6 1h0m18 0h0m1 2h0m-10 1h0m2 0h0m7 1h0m-13 1h0m2 0h0m4 0h0m-5 1h0m-1 1h0m12 1h0m1 1h0" stroke="#a8a4c0" stroke-width="1.6" stroke-linecap="square"/>
<path d="M911 124h0m-3 3h0m5 1h0m7 1h0m-5 1h0m1 0h0m2 0h0m3 1h0m-8 2h0m1 0h0m3 2h0m2 0h0m-4 1h0m4 1h0m29 0h0m-35 1h0m6 0h0m27 0h0m4 0h0m-42 1h0m4 1h0m-4 1h0m37 0h0m3 0h0m5 0h0m5 0h0m-11 1h0m6 0h0m-38 2h0m37 0h0m2 0h0m4 0h0m-16 1h0m9 0h0m2 0h0m-41 1h0m36 0h0m7 0h0m-14 1h0m3 0h0m4 0h0m-3 1h0m14 0h0m4 0h0m-7 1h0m-16 1h0m4 0h0m21 2h0m-7 1h0m-22 1h0m16 0h0m-1 1h0m7 0h0m6 0h0m-10 1h0m-13 1h0m14 1h0m2 0h0m-19 1h0m12 0h0m12 0h0m-14 1h0m18 0h0m-9 1h0m2 0h0m2 1h0m14 1h0m-36 1h0m8 1h0m32 0h0m-34 1h0m23 0h0m3 0h0m4 0h0m2 0h0m-9 1h0m1 0h0m2 0h0m3 0h0m-1 30h0m1 0h0m-10 1h0m2 0h0m7 0h0m-3 2h0m6 1h0m-12 1h0m12 0h0m7 0h0m-16 1h0m5 0h0m11 0h0m-21 1h0m3 0h0m21 0h0m-21 1h0m17 1h0m-22 2h0m16 0h0m1 0h0m-10 1h0m17 0h0m5 0h0m-20 2h0m8 0h0m12 1h0m-19 1h0m1 0h0m11 0h0m2 0h0m3 0h0m-26 1h0m5 0h0m9 0h0m1 1h0m-7 1h0m3 0h0m17 0h0m-24 1h0m24 0h0m-24 1h0m4 0h0m1 0h0m5 0h0m6 0h0m2 0h0m5 0h0m-26 1h0m3 0h0m5 0h0m6 0h0m5 0h0m-11 1h0m7 0h0m-13 1h0m1 0h0m5 0h0m1 0h0m-2 1h0m6 0h0m-8 1h0m12 0h0m6 0h0m-11 1h0m-13 1h0m3 0h0m4 0h0m3 0h0m4 0h0m2 0h0m-10 1h0m5 0h0m5 0h0m12 0h0m-23 1h0m-3 1h0m5 0h0m14 0h0m-18 1h0m3 0h0m4 0h0m17 0h0m-29 1h0m5 0h0m5 0h0m2 0h0m4 0h0m-4 1h0m11 1h0m-18 1h0m7 0h0m8 0h0m-9 1h0m13 0h0m-15 1h0m1 0h0m1 0h0m2 0h0m0 1h0m10 0h0m-19 2h0m4 0h0m12 0h0m-15 1h0m13 0h0m2 1h0m-28 1h0m5 1h0m15 0h0m8 0h0m-32 1h0m8 0h0m18 0h0m2 0h0m4 0h0m1 0h0m-31 1h0m1 2h0m5 1h0m19 0h0m1 0h0m-27 1h0m4 0h0m3 0h0m23 0h0m-23 1h0m-1 1h0m-2 1h0m3 0h0m-12 3h0m7 1h0m13 0h0m-21 1h0m2 1h0m5 0h0m15 0h0m-12 1h0m9 1h0m-22 1h0m25 0h0m-16 1h0m-5 1h0m1 0h0m-7 1h0m27 0h0m-27 1h0m15 0h0m5 0h0m-15 1h0m7 0h0m-10 1h0m10 1h0m9 0h0m1 0h0m-22 1h0m3 0h0m3 0h0m8 1h0m3 1h0m5 0h0m-2 1h0m2 0h0m6 0h0m-14 1h0m15 0h0m2 0h0m-20 1h0m6 0h0m8 0h0m11 0h0m-15 1h0m16 0h0m-15 2h0m5 0h0m3 0h0m1 0h0m-15 1h0m4 1h0m12 0h0m2 1h0m-13 1h0m7 0h0m7 0h0m5 0h0m-7 2h0m4 0h0m-10 1h0m-9 1h0m5 2h0m0 2h0m17 1h0m-1 1h0m-11 1h0m11 0h0" stroke="#8a86a0" stroke-width="1.6" stroke-linecap="square"/>
<path d="M908 125h0m11 0h0m1 1h0m-4 1h0m3 0h0m-4 1h0m-2 5h0m-3 2h0m1 1h0m9 0h0m26 0h0m-37 1h0m1 0h0m48 2h0m-42 1h0m37 0h0m-8 1h0m15 2h0m1 0h0m-48 2h0m39 0h0m2 0h0m-40 1h0m44 0h0m-46 1h0m29 0h0m12 0h0m-6 1h0m11 0h0m-19 1h0m6 0h0m-1 1h0m4 0h0m3 0h0m7 0h0m-21 1h0m0 1h0m9 1h0m1 0h0m-6 1h0m8 0h0m2 0h0m10 0h0m-22 1h0m3 0h0m13 0h0m11 0h0m-10 2h0m-12 1h0m1 0h0m4 0h0m3 0h0m2 0h0m10 0h0m-20 2h0m20 1h0m1 0h0m1 0h0m2 1h0m2 0h0m1 0h0m5 0h0m-37 1h0m20 0h0m10 0h0m4 0h0m4 0h0m-38 1h0m1 0h0m38 0h0m-37 1h0m1 0h0m1 1h0m4 0h0m25 1h0m3 0h0m5 0h0m-11 24h0m-3 5h0m6 0h0m1 0h0m-3 1h0m1 2h0m1 1h0m-2 1h0m-5 1h0m-1 1h0m11 1h0m2 0h0m1 3h0m-19 1h0m12 0h0m7 0h0m-11 1h0m-8 1h0m12 0h0m9 0h0m4 0h0m-16 1h0m0 1h0m1 0h0m10 0h0m-4 1h0m6 0h0m-22 1h0m3 0h0m14 0h0m3 0h0m-14 1h0m25 0h0m-21 2h0m7 0h0m8 0h0m1 0h0m4 0h0m-19 1h0m3 0h0m16 0h0m-27 1h0m9 0h0m5 0h0m-6 1h0m3 0h0m4 0h0m-11 1h0m15 0h0m-17 1h0m6 0h0m8 0h0m-3 1h0m-6 1h0m2 0h0m0 1h0m2 0h0m3 0h0m9 0h0m-10 1h0m6 0h0m4 0h0m1 0h0m-10 1h0m-5 1h0m6 0h0m-9 1h0m4 0h0m-4 1h0m-3 1h0m10 0h0m3 0h0m8 0h0m-24 1h0m16 0h0m-19 2h0m5 0h0m6 0h0m8 1h0m-9 1h0m4 0h0m-13 1h0m6 0h0m5 0h0m1 0h0m3 0h0m-9 1h0m6 1h0m7 0h0m1 0h0m3 0h0m-23 1h0m17 0h0m-26 1h0m21 0h0m3 0h0m2 0h0m-2 1h0m5 0h0m3 0h0m-34 1h0m28 0h0m-21 1h0m18 0h0m-24 1h0m4 0h0m23 0h0m-27 2h0m25 0h0m-27 1h0m13 1h0m-2 1h0m-14 1h0m12 1h0m1 0h0m-5 1h0m9 0h0m-18 2h0m15 0h0m-9 1h0m14 0h0m-11 1h0m1 0h0m2 1h0m-18 1h0m14 0h0m2 0h0m-6 1h0m5 1h0m-6 1h0m2 0h0m2 0h0m7 1h0m-17 1h0m0 1h0m2 0h0m5 0h0m7 0h0m-10 1h0m12 0h0m-20 1h0m8 0h0m6 0h0m3 1h0m3 1h0m-14 1h0m1 0h0m-2 1h0m13 0h0m10 0h0m-17 1h0m4 0h0m11 0h0m-11 2h0m18 0h0m-9 1h0m-5 1h0m7 0h0m4 0h0m1 0h0m-10 1h0m6 0h0m-11 1h0m13 0h0m1 0h0m-14 1h0m5 0h0m9 0h0m2 0h0m1 0h0m5 0h0m-23 1h0m3 3h0m17 1h0m-9 2h0m9 0h0m-8 3h0" stroke="#b0acc4" stroke-width="1.6" stroke-linecap="square"/>
<path d="M913 122h0m-2 2h0m3 0h0m-4 1h0m9 0h0m-7 1h0m2 2h0m4 0h0m3 1h0m-6 4h0m-2 1h0m4 1h0m29 1h0m-40 1h0m10 1h0m1 1h0m37 0h0m2 0h0m-42 1h0m7 0h0m26 0h0m-37 1h0m46 0h0m-50 1h0m12 0h0m39 0h0m-47 2h0m3 0h0m30 0h0m-32 1h0m41 1h0m11 0h0m-53 1h0m48 0h0m-2 1h0m2 0h0m-2 1h0m-1 1h0m8 1h0m1 0h0m-28 2h0m11 0h0m12 1h0m-12 1h0m5 0h0m12 0h0m-19 1h0m4 0h0m16 0h0m-17 1h0m2 0h0m-5 1h0m2 0h0m6 0h0m-15 1h0m4 0h0m14 0h0m-13 2h0m18 0h0m2 1h0m-23 1h0m9 0h0m20 0h0m4 0h0m-31 1h0m26 0h0m5 0h0m-26 1h0m-5 1h0m5 0h0m20 0h0m2 2h0m10 0h0m-7 1h0m-2 1h0m-3 23h0m3 0h0m-3 4h0m3 0h0m1 1h0m2 1h0m-5 4h0m13 0h0m4 0h0m-12 1h0m10 0h0m-2 1h0m1 0h0m3 1h0m2 1h0m-9 1h0m8 0h0m-25 2h0m23 0h0m-21 1h0m18 0h0m-13 1h0m9 0h0m10 0h0m1 0h0m-20 1h0m8 0h0m-15 2h0m8 0h0m17 0h0m-27 1h0m10 0h0m4 0h0m1 0h0m5 1h0m10 0h0m-28 1h0m3 0h0m9 0h0m6 0h0m5 0h0m-13 1h0m18 0h0m-11 1h0m-4 1h0m2 0h0m-13 1h0m12 0h0m-12 1h0m25 0h0m-26 1h0m14 0h0m-16 1h0m10 0h0m-4 1h0m12 0h0m11 0h0m-17 1h0m4 0h0m-13 1h0m12 0h0m-15 1h0m12 0h0m9 0h0m-5 1h0m1 0h0m9 0h0m-15 1h0m1 0h0m9 0h0m-17 1h0m1 0h0m-1 1h0m4 0h0m-1 1h0m1 0h0m4 0h0m3 1h0m-11 1h0m11 0h0m4 0h0m3 0h0m-12 1h0m1 0h0m-11 1h0m12 0h0m4 0h0m1 0h0m-10 1h0m12 0h0m-10 1h0m8 0h0m2 0h0m3 0h0m-20 1h0m2 0h0m-9 1h0m18 0h0m-25 1h0m3 0h0m20 0h0m2 0h0m5 0h0m1 0h0m-32 1h0m18 0h0m11 0h0m3 1h0m-1 1h0m-3 2h0m-27 1h0m1 0h0m4 0h0m2 0h0m-10 1h0m5 0h0m3 0h0m-4 1h0m3 2h0m7 0h0m-16 1h0m3 0h0m14 0h0m4 2h0m-22 1h0m12 0h0m6 0h0m-9 1h0m5 0h0m-12 1h0m17 1h0m-15 1h0m3 0h0m1 0h0m2 0h0m-10 2h0m-2 1h0m1 0h0m3 0h0m1 0h0m9 0h0m10 0h0m-20 1h0m6 0h0m10 0h0m2 0h0m-17 1h0m20 0h0m-18 1h0m16 0h0m1 0h0m1 0h0m-28 1h0m19 0h0m8 0h0m1 0h0m-26 1h0m21 0h0m-16 1h0m26 0h0m-28 1h0m15 1h0m13 1h0m-20 1h0m11 1h0m1 0h0m-1 1h0m8 0h0m-9 1h0m6 0h0m6 0h0m-12 1h0m12 0h0m-20 1h0m25 0h0m-23 1h0m-2 1h0m14 1h0m7 0h0m-11 1h0m5 0h0m6 1h0m1 0h0m1 1h0m-14 3h0m7 0h0m-1 2h0m1 0h0" stroke="#c8c4d8" stroke-width="1.6" stroke-linecap="square"/>
<path d="M911 124h0m0 1h0m8 0h0m0 2h0m-9 2h0m5 3h0m-5 2h0m2 0h0m-5 3h0m11 0h0m28 1h0m-38 1h0m38 0h0m12 1h0m-44 1h0m3 1h0m32 1h0m1 0h0m8 0h0m-12 2h0m4 0h0m-39 1h0m32 0h0m7 0h0m10 0h0m-7 1h0m-14 1h0m4 1h0m4 1h0m14 0h0m-24 1h0m7 0h0m7 0h0m-12 1h0m17 0h0m3 0h0m-16 1h0m13 1h0m4 0h0m2 0h0m-17 2h0m10 2h0m-15 1h0m9 0h0m7 0h0m10 1h0m-27 1h0m8 0h0m7 0h0m18 1h0m5 0h0m-19 1h0m17 0h0m-31 2h0m2 0h0m23 0h0m6 1h0m-7 1h0m2 0h0m6 0h0m6 0h0m-3 1h0m-13 1h0m12 0h0m-5 1h0m-5 25h0m5 0h0m-7 2h0m7 0h0m1 0h0m-1 2h0m-1 1h0m-1 2h0m-4 2h0m-7 1h0m1 0h0m3 0h0m17 0h0m-21 2h0m3 1h0m5 1h0m14 0h0m3 0h0m-25 1h0m3 0h0m12 0h0m-15 1h0m13 0h0m15 0h0m-24 1h0m2 0h0m12 0h0m3 0h0m1 0h0m3 0h0m-10 1h0m1 0h0m5 0h0m-22 1h0m16 0h0m11 0h0m2 0h0m-22 1h0m8 0h0m7 0h0m-7 1h0m1 0h0m3 0h0m6 0h0m2 0h0m-13 1h0m1 0h0m14 0h0m1 0h0m-27 1h0m1 0h0m3 0h0m2 0h0m17 0h0m-13 1h0m7 1h0m4 0h0m5 0h0m-19 1h0m4 0h0m8 0h0m6 0h0m-20 1h0m1 0h0m2 0h0m19 0h0m-11 1h0m-8 1h0m9 0h0m10 0h0m-15 1h0m3 0h0m5 0h0m3 0h0m-10 1h0m-15 1h0m9 0h0m1 0h0m1 0h0m1 0h0m-10 1h0m14 0h0m3 0h0m6 0h0m-22 1h0m6 0h0m6 0h0m5 0h0m5 0h0m-20 1h0m7 0h0m15 0h0m-27 1h0m2 0h0m12 0h0m3 0h0m3 0h0m1 0h0m-7 1h0m4 0h0m5 0h0m-10 1h0m1 0h0m-5 1h0m9 0h0m-9 1h0m14 0h0m-15 1h0m4 0h0m3 0h0m-4 1h0m-3 2h0m3 0h0m9 0h0m-7 1h0m3 0h0m-12 1h0m3 0h0m2 0h0m6 0h0m3 0h0m2 0h0m-33 1h0m5 0h0m15 0h0m12 0h0m-32 2h0m23 0h0m5 0h0m4 1h0m-23 1h0m21 0h0m2 0h0m-33 2h0m1 0h0m7 0h0m3 0h0m4 0h0m16 0h0m-17 1h0m-10 2h0m-4 1h0m15 0h0m-19 2h0m2 0h0m9 0h0m8 0h0m-9 1h0m2 0h0m5 0h0m2 1h0m-14 1h0m6 0h0m-13 1h0m9 0h0m14 0h0m-4 1h0m-12 1h0m10 0h0m3 0h0m-15 1h0m-1 1h0m4 0h0m1 0h0m6 0h0m6 0h0m4 1h0m-13 1h0m14 0h0m-2 1h0m-17 1h0m-5 1h0m8 0h0m9 0h0m1 0h0m-14 1h0m1 0h0m1 0h0m15 0h0m2 0h0m-20 1h0m5 0h0m16 0h0m3 2h0m-11 1h0m4 0h0m3 0h0m-22 1h0m3 0h0m7 0h0m6 0h0m4 1h0m-10 2h0m7 1h0m1 0h0m2 0h0m2 0h0m-15 2h0m11 0h0m3 0h0m3 0h0m-5 1h0m-2 2h0m13 0h0m-15 1h0m12 0h0m-1 3h0m4 1h0m-13 1h0m11 0h0m3 0h0m0 1h0m3 0h0m-9 1h0m0 1h0m7 0h0" stroke="#dcd8e8" stroke-width="1.6" stroke-linecap="square"/>
<path d="M876 141h0m2 0h0m2 0h0m4 0h0m1 0h0m1 0h0m-9 1h0m5 0h0m3 0h0m2 0h0m-7 1h0m3 0h0m4 0h0m-11 1h0m3 0h0m4 0h0m-6 1h0m1 0h0m12 0h0m-8 1h0m1 0h0m4 0h0m1 0h0m-9 1h0m2 0h0m2 0h0m3 0h0m-4 2h0m1 0h0m30 4h0m3 1h0m3 0h0m4 0h0m-11 1h0m4 0h0m-5 1h0m2 0h0m2 0h0m-4 1h0m5 0h0m1 0h0m5 0h0m1 0h0m-10 1h0m1 0h0m2 0h0m2 0h0m2 0h0m-7 1h0m1 0h0m1 0h0m1 0h0m6 0h0m-7 1h0m2 0h0m4 0h0m1 0h0m3 0h0m-2 1h0m1 0h0m-9 1h0m1 0h0m1 0h0m1 1h0m1 1h0m3 0h0m24 21h0m0 2h0m-3 1h0m7 1h0m1 0h0m-5 1h0m5 0h0m-2 1h0m3 0h0m-7 1h0m3 0h0m1 0h0m2 0h0m1 0h0m1 0h0m-11 2h0m4 0h0m1 0h0m3 0h0m-6 1h0m6 0h0m1 0h0m-2 1h0m1 0h0m-4 1h0m2 1h0m53 65h0m-1 1h0m2 0h0m4 0h0m-3 1h0m1 0h0m7 0h0m-13 1h0m16 0h0m-10 1h0m1 0h0m3 0h0m5 0h0m-11 1h0m3 0h0m2 0h0m6 1h0m-14 1h0m12 0h0m4 0h0m-18 1h0m1 0h0m1 0h0m12 0h0m3 0h0m-11 1h0m7 0h0m0 1h0m1 0h0m3 0h0m-13 1h0m6 0h0m3 0h0m-12 1h0m4 0h0m5 0h0m3 0h0m-14 1h0m6 0h0m5 0h0m5 0h0m-14 1h0m2 0h0m4 0h0m-10 1h0m1 0h0m2 0h0m6 0h0m2 0h0m1 0h0m4 0h0m-7 1h0m2 0h0m-8 1h0m7 0h0m4 0h0m-13 1h0m3 0h0m2 0h0m4 0h0m2 0h0m1 0h0m3 0h0m-15 1h0m1 0h0m3 0h0m2 0h0m4 0h0m4 0h0m1 0h0m-12 1h0m5 0h0m2 0h0m3 0h0m-8 1h0m5 0h0m5 0h0m-12 1h0m3 0h0m2 0h0m-7 1h0m3 0h0m5 0h0m3 0h0m-7 2h0m2 0h0m1 0h0m1 0h0m0 1h0m-5 4h0" stroke="#6a7038" stroke-width="1.7" stroke-linecap="square"/>
<path d="M877 141h0m1 0h0m9 0h0m-6 1h0m3 0h0m-8 1h0m9 0h0m-9 1h0m2 0h0m12 0h0m-13 1h0m0 1h0m1 1h0m1 0h0m-2 1h0m1 0h0m2 0h0m6 0h0m-3 1h0m35 1h0m2 2h0m-1 1h0m-4 1h0m5 0h0m1 1h0m-8 1h0m5 0h0m-4 1h0m7 0h0m1 0h0m-5 1h0m8 0h0m-11 1h0m1 0h0m3 0h0m4 0h0m-8 1h0m2 0h0m4 0h0m1 0h0m1 0h0m1 0h0m-4 1h0m4 0h0m-4 1h0m3 0h0m-5 1h0m2 0h0m3 0h0m-5 1h0m6 0h0m-2 1h0m0 1h0m20 19h0m4 1h0m3 1h0m-2 1h0m-5 2h0m2 0h0m1 0h0m1 0h0m3 0h0m-7 1h0m5 0h0m1 0h0m1 0h0m4 0h0m-12 1h0m2 0h0m2 0h0m1 0h0m4 0h0m3 0h0m-11 1h0m1 0h0m3 0h0m2 1h0m3 0h0m-8 1h0m2 0h0m5 0h0m-5 1h0m3 2h0m2 0h0m60 65h0m1 1h0m2 0h0m-6 1h0m4 0h0m1 0h0m2 0h0m-10 1h0m1 0h0m4 0h0m4 1h0m-10 1h0m3 0h0m4 0h0m3 0h0m-11 1h0m6 0h0m7 0h0m-18 1h0m7 0h0m5 0h0m2 0h0m-13 1h0m3 0h0m2 0h0m2 0h0m4 0h0m3 0h0m2 0h0m-17 1h0m3 0h0m1 0h0m12 0h0m1 0h0m-17 1h0m3 0h0m5 0h0m4 0h0m3 0h0m-16 1h0m1 0h0m2 0h0m3 0h0m3 0h0m9 0h0m-11 2h0m6 0h0m-10 1h0m1 0h0m1 0h0m2 0h0m5 0h0m3 0h0m-15 1h0m11 0h0m5 0h0m-9 1h0m1 0h0m5 0h0m1 0h0m2 0h0m1 0h0m-12 1h0m1 0h0m1 0h0m1 0h0m2 0h0m5 0h0m-13 1h0m1 0h0m6 0h0m1 0h0m-4 1h0m6 0h0m-10 1h0m7 0h0m4 0h0m-12 1h0m2 0h0m3 0h0m3 0h0m-1 2h0m-2 1h0m1 0h0m-3 1h0m4 0h0m3 0h0m1 0h0m-8 1h0m1 0h0m3 0h0m-3 1h0m3 0h0m0 1h0" stroke="#5a6030" stroke-width="1.7" stroke-linecap="square"/>
<path d="M880 140h0m-3 1h0m1 0h0m2 0h0m2 0h0m-6 1h0m2 0h0m4 0h0m1 0h0m-2 1h0m-4 1h0m10 0h0m1 0h0m-11 1h0m3 0h0m3 1h0m-5 1h0m4 0h0m2 0h0m-4 1h0m1 0h0m0 1h0m36 2h0m-2 1h0m1 0h0m6 0h0m-5 1h0m5 0h0m1 0h0m-10 1h0m10 0h0m-8 1h0m1 0h0m6 0h0m-6 1h0m2 0h0m1 0h0m3 0h0m-10 1h0m3 0h0m4 0h0m1 0h0m-9 1h0m11 0h0m-7 1h0m1 0h0m1 0h0m3 0h0m1 0h0m1 0h0m-3 1h0m2 1h0m-5 1h0m9 0h0m1 1h0m-4 1h0m2 0h0m-3 1h0m23 20h0m2 0h0m-5 1h0m-1 1h0m2 0h0m8 0h0m-9 1h0m1 0h0m6 0h0m-7 1h0m1 0h0m1 0h0m2 0h0m1 0h0m3 0h0m2 0h0m-10 1h0m4 0h0m1 1h0m5 0h0m2 0h0m-8 1h0m8 0h0m-10 1h0m4 0h0m2 0h0m-5 1h0m1 0h0m-1 1h0m5 0h0m-6 1h0m1 0h0m3 0h0m2 0h0m1 0h0m1 0h0m-7 1h0m2 0h0m1 1h0m54 66h0m4 0h0m2 0h0m-6 1h0m1 0h0m9 0h0m2 0h0m-12 1h0m8 0h0m-6 1h0m2 0h0m-4 1h0m1 0h0m9 0h0m1 0h0m-9 1h0m3 0h0m3 0h0m3 0h0m-15 1h0m1 0h0m-1 1h0m5 0h0m1 0h0m1 0h0m3 0h0m6 0h0m-16 1h0m1 0h0m2 0h0m7 0h0m-7 1h0m2 0h0m3 0h0m5 0h0m-16 1h0m2 0h0m3 0h0m2 0h0m3 0h0m1 0h0m0 1h0m-5 1h0m12 0h0m-2 1h0m-15 1h0m4 0h0m5 0h0m-9 1h0m4 0h0m3 0h0m-7 1h0m4 0h0m1 0h0m1 0h0m10 0h0m-16 1h0m2 0h0m11 0h0m-10 1h0m1 0h0m1 0h0m1 0h0m2 0h0m8 0h0m-13 1h0m3 0h0m-3 1h0m1 0h0m2 0h0m3 0h0m2 0h0m1 0h0m2 0h0m1 0h0m-1 1h0m-13 1h0m1 0h0m1 0h0m4 0h0m1 0h0m3 1h0m1 0h0m-7 1h0m5 0h0m1 0h0m-8 1h0m1 2h0m3 1h0" stroke="#3a3a28" stroke-width="1.7" stroke-linecap="square"/>
<path d="M880 141h0m4 0h0m2 0h0m-5 1h0m2 0h0m-1 1h0m1 0h0m1 0h0m4 0h0m-9 1h0m3 0h0m2 0h0m2 0h0m1 0h0m3 0h0m-7 1h0m4 0h0m2 0h0m-9 1h0m3 0h0m6 0h0m-11 1h0m5 0h0m2 0h0m1 0h0m1 0h0m-6 1h0m3 0h0m1 0h0m34 3h0m-4 1h0m2 0h0m4 0h0m-8 1h0m5 0h0m4 0h0m-6 1h0m2 0h0m1 0h0m2 0h0m-10 1h0m1 0h0m5 0h0m7 0h0m-10 1h0m1 0h0m6 0h0m1 0h0m1 0h0m-11 1h0m3 0h0m3 0h0m1 0h0m-6 2h0m11 0h0m-10 1h0m7 0h0m4 0h0m0 1h0m-8 1h0m5 0h0m2 0h0m1 0h0m1 0h0m-8 1h0m4 1h0m-2 1h0m21 20h0m5 1h0m-4 1h0m3 0h0m-5 1h0m8 0h0m-4 1h0m3 0h0m1 1h0m1 0h0m-8 1h0m2 0h0m3 1h0m2 0h0m2 0h0m-7 1h0m1 0h0m1 0h0m3 0h0m-7 1h0m3 0h0m3 0h0m2 0h0m2 0h0m-8 1h0m6 0h0m-5 2h0m3 1h0m0 1h0m60 64h0m-4 1h0m5 0h0m2 0h0m1 0h0m-6 1h0m1 0h0m2 0h0m1 0h0m5 0h0m-9 1h0m1 0h0m2 0h0m6 0h0m-11 1h0m2 0h0m-8 1h0m3 0h0m5 0h0m4 0h0m3 0h0m2 0h0m-17 1h0m5 0h0m3 0h0m4 0h0m-12 1h0m9 0h0m4 0h0m-10 1h0m4 0h0m2 0h0m-10 1h0m3 0h0m1 0h0m-3 1h0m3 0h0m3 0h0m2 0h0m5 0h0m-13 1h0m3 0h0m3 0h0m1 0h0m2 0h0m8 0h0m-16 1h0m6 0h0m2 0h0m2 0h0m1 0h0m5 0h0m-14 1h0m4 0h0m1 0h0m2 0h0m5 0h0m2 0h0m-16 1h0m6 0h0m7 0h0m-10 1h0m11 0h0m-11 1h0m6 0h0m3 0h0m3 0h0m-18 1h0m1 0h0m4 0h0m-3 1h0m2 0h0m1 0h0m4 0h0m1 0h0m4 0h0m2 0h0m-13 1h0m5 0h0m5 0h0m-6 1h0m3 0h0m1 0h0m1 0h0m-5 1h0m-1 1h0m3 0h0m1 0h0m1 0h0m-9 1h0m6 0h0m5 0h0m-4 1h0m3 0h0m-7 1h0m1 0h0m6 0h0m-9 1h0m2 0h0m0 1h0m2 0h0m-2 2h0" stroke="#4a5028" stroke-width="1.7" stroke-linecap="square"/>
<path d="M881 140h0m0 1h0m2 0h0m-7 1h0m3 0h0m1 0h0m7 0h0m-10 1h0m2 0h0m1 0h0m3 1h0m-6 1h0m1 0h0m1 0h0m6 0h0m3 0h0m-10 1h0m2 0h0m0 1h0m2 0h0m2 1h0m2 0h0m28 3h0m-1 1h0m6 0h0m0 1h0m1 0h0m3 0h0m-10 1h0m2 0h0m4 0h0m2 0h0m2 0h0m-10 1h0m1 0h0m-1 1h0m1 0h0m-1 1h0m5 0h0m-5 1h0m6 0h0m3 0h0m-9 1h0m2 1h0m10 0h0m-9 1h0m2 0h0m5 0h0m-7 1h0m1 0h0m1 0h0m1 0h0m6 0h0m-7 1h0m3 1h0m1 0h0m1 0h0m2 0h0m-6 1h0m2 1h0m23 18h0m-1 1h0m3 0h0m-1 1h0m3 0h0m1 1h0m1 0h0m-9 1h0m2 0h0m5 0h0m3 1h0m-8 2h0m2 0h0m1 0h0m2 0h0m-4 1h0m2 0h0m2 0h0m5 0h0m-6 1h0m1 0h0m-6 1h0m1 0h0m1 0h0m6 0h0m-3 2h0m3 0h0m-6 2h0m1 0h0m55 65h0m3 0h0m2 1h0m3 0h0m2 0h0m2 0h0m-9 1h0m1 0h0m4 0h0m-8 1h0m5 0h0m5 0h0m1 0h0m-12 1h0m6 0h0m5 0h0m-10 1h0m2 0h0m6 0h0m1 0h0m-10 1h0m-2 1h0m2 1h0m4 0h0m2 0h0m1 0h0m6 0h0m-16 1h0m6 0h0m6 0h0m5 0h0m-11 1h0m8 0h0m-15 1h0m1 0h0m3 0h0m2 0h0m5 0h0m1 0h0m3 0h0m-14 1h0m5 0h0m2 0h0m3 0h0m5 0h0m1 0h0m1 0h0m-14 1h0m6 0h0m5 0h0m1 0h0m-17 1h0m1 0h0m3 0h0m2 0h0m3 0h0m-8 1h0m8 0h0m2 0h0m1 0h0m1 0h0m1 0h0m1 0h0m-13 1h0m3 0h0m9 0h0m3 0h0m-16 1h0m2 0h0m1 0h0m8 0h0m2 0h0m-11 1h0m1 0h0m6 0h0m4 0h0m-6 1h0m8 0h0m-10 1h0m1 0h0m1 0h0m-6 1h0m1 0h0m4 0h0m4 0h0m1 0h0m-9 1h0m2 0h0m1 0h0m3 0h0m4 0h0m1 0h0m-7 1h0m3 0h0m2 0h0m-7 1h0m3 0h0m2 0h0m-5 1h0m2 0h0m0 1h0m1 0h0m1 0h0m2 0h0m-3 1h0m-1 1h0m-2 2h0" stroke="#7a7a40" stroke-width="1.7" stroke-linecap="square"/>
<path d="M963 181h0m6 0h0m-4 1h0m7 0h0m0 1h0m-7 1h0m3 2h0m5 1h0m-2 1h0m1 0h0m-2 2h0m-7 1h0m8 0h0m-9 1h0m4 0h0" stroke="#2a2030" stroke-width="1.7" stroke-linecap="square"/>
<path d="M969 181h0m4 2h0m-9 1h0m1 0h0m2 0h0m-6 1h0m-2 1h0m9 0h0m-8 1h0m-1 2h0m2 1h0m12 0h0m-6 1h0m-4 1h0m-1 1h0m2 0h0m2 0h0" stroke="#502828" stroke-width="1.7" stroke-linecap="square"/>
<path d="M968 183h0m3 0h0m-10 1h0m11 3h0m-14 2h0m1 0h0m8 0h0m-9 1h0m3 0h0m2 0h0m-4 1h0m3 0h0m1 0h0m6 0h0m2 0h0m-12 1h0m3 0h0m1 1h0m1 0h0" stroke="#804040" stroke-width="1.7" stroke-linecap="square"/>
<path d="M966 181h0m2 0h0m-1 1h0m-2 2h0m0 1h0m-5 2h0m14 0h0m-15 1h0m5 0h0m4 0h0m-6 1h0m2 1h0m5 0h0m1 0h0m-2 1h0m1 0h0m-8 2h0" stroke="#6a3030" stroke-width="1.7" stroke-linecap="square"/>
<path d="M1041 275h0m6 1h0m-4 1h0m2 0h0m-2 1h0m6 0h0m-16 1h0m4 3h0m-5 1h0m3 0h0m7 2h0m-9 20h0m4 1h0m1 0h0m-7 1h0m-1 1h0m4 1h0m3 0h0" stroke="#18141c" stroke-width="1.5" stroke-linecap="square"/>
<path d="M1037 277h0m7 2h0m-14 2h0m11 1h0m-4 1h0m4 1h0m1 1h0m-11 24h0m8 0h0m-286 152h0m0 2h0m3 3h0m-5 2h0m3 0h0m-6 3h0m7 1h0m-5 1h0m1 5h0m1 0h0m27 177h0m3 2h0m4 0h0m11 0h0m-6 1h0m6 0h0m1 0h0m-7 1h0m-12 1h0m8 0h0m-6 1h0m6 0h0m-1 24h0m4 2h0m1 1h0m-10 1h0m-4 1h0m7 0h0m7 0h0" stroke="#5a4a48" stroke-width="1.5" stroke-linecap="square"/>
<path d="M1036 276h0m5 0h0m-4 2h0m11 0h0m-5 3h0m-12 2h0m10 2h0m-11 20h0m6 3h0m-2 4h0m2 2h0" stroke="#3a3a50" stroke-width="1.5" stroke-linecap="square"/>
<path d="M1044 277h0m4 1h0m-13 4h0m-4 1h0m1 23h0m2 2h0m-3 1h0m4 0h0m-2 4h0" stroke="#3a3040" stroke-width="1.5" stroke-linecap="square"/>
<path d="M1041 276h0m2 0h0m-5 2h0m10 0h0m-8 1h0m-5 2h0m5 0h0m-4 3h0m-4 21h0m3 0h0m-2 2h0m-1 2h0m2 0h0m0 1h0m3 3h0" stroke="#201828" stroke-width="1.5" stroke-linecap="square"/>
<path d="M1035 278h0m4 0h0m-4 1h0m11 4h0m-10 22h0m1 3h0m-5 1h0m1 0h0" stroke="#4a4058" stroke-width="1.5" stroke-linecap="square"/>
<path d="M1037 306h0m-2 1h0m-2 1h0m-2 2h0" stroke="#3a4858" stroke-width="1.5" stroke-linecap="square"/>
<path d="M861 160h0m13 0h0m19 0h0m-47 1h0m41 0h0m3 4h0m12 6h0m-26 1h0m-12 1h0m48 0h0m-18 1h0m-36 1h0m-7 3h0m4 2h0m59 0h0m-26 2h0m-29 1h0m28 1h0m-44 2h0m49 0h0m-45 1h0m14 0h0m21 0h0m40 0h0m-36 1h0m9 0h0m-38 3h0m68 0h0m-35 2h0m36 2h0m10 0h0m-29 2h0m26 0h0m-46 3h0m16 1h0m14 1h0m25 1h0m-79 1h0m16 1h0m7 4h0m18 0h0m-15 1h0m34 0h0m-30 1h0m39 0h0m-61 1h0m11 0h0m14 0h0m-23 1h0m46 2h0m7 0h0m4 0h0m-45 1h0m17 0h0m37 2h0m-18 1h0m16 0h0m8 0h0m-41 1h0m6 1h0m32 1h0m6 1h0m-56 1h0m3 0h0m17 1h0m-11 1h0m-5 1h0m49 1h0m-10 1h0m-36 2h0m34 0h0m26 1h0m-22 1h0m-17 1h0m21 1h0m13 2h0m-20 3h0m9 0h0m12 0h0m-18 2h0m-5 1h0m-5 1h0m9 3h0m12 1h0" stroke="#708030" stroke-width="1.3" stroke-linecap="square"/>
<path d="M847 159h0m6 0h0m27 1h0m-5 1h0m-10 2h0m2 1h0m-8 1h0m12 0h0m-29 1h0m42 0h0m21 0h0m3 1h0m-38 1h0m17 1h0m19 2h0m-60 7h0m72 0h0m-2 2h0m1 0h0m-58 1h0m11 0h0m19 0h0m20 0h0m7 0h0m1 0h0m-6 1h0m-55 2h0m40 0h0m30 1h0m-51 2h0m-19 1h0m35 1h0m13 1h0m-48 1h0m45 0h0m-50 1h0m53 0h0m-40 2h0m29 0h0m34 0h0m-26 1h0m14 0h0m-24 1h0m45 0h0m-44 1h0m25 1h0m12 0h0m10 0h0m-14 1h0m4 0h0m-75 1h0m49 0h0m2 1h0m-32 2h0m-13 1h0m76 0h0m-49 1h0m10 1h0m17 0h0m-27 1h0m23 2h0m18 0h0m-2 1h0m16 0h0m-35 2h0m-32 1h0m66 0h0m-63 2h0m63 0h0m-52 1h0m8 0h0m12 0h0m-34 2h0m27 0h0m25 1h0m-44 1h0m11 0h0m-13 1h0m2 1h0m65 0h0m3 0h0m-41 1h0m12 0h0m3 0h0m11 0h0m4 1h0m-45 1h0m58 1h0m-24 2h0m4 1h0m-14 3h0m25 0h0m-36 1h0m24 0h0m1 0h0m-23 1h0m9 4h0m42 1h0m-38 1h0m12 2h0m13 3h0" stroke="#c0b848" stroke-width="1.3" stroke-linecap="square"/>
<path d="M848 159h0m27 2h0m-30 1h0m43 0h0m-24 4h0m38 0h0m-57 2h0m3 0h0m13 0h0m5 0h0m38 2h0m-63 2h0m11 0h0m14 0h0m24 0h0m-48 3h0m22 0h0m18 1h0m37 2h0m-37 1h0m3 0h0m-5 1h0m-15 1h0m-7 1h0m12 0h0m21 0h0m-27 1h0m8 0h0m43 0h0m-39 1h0m48 0h0m1 0h0m-57 1h0m55 0h0m-41 2h0m34 0h0m-67 1h0m4 0h0m8 0h0m35 0h0m6 0h0m11 0h0m-6 1h0m25 0h0m-74 1h0m2 3h0m9 0h0m63 0h0m-40 1h0m17 0h0m-28 4h0m19 1h0m-13 1h0m38 1h0m-65 1h0m58 0h0m26 0h0m-79 1h0m17 0h0m25 0h0m-42 2h0m10 0h0m6 0h0m-14 1h0m17 0h0m19 0h0m12 2h0m2 1h0m-27 1h0m9 1h0m-23 1h0m21 1h0m25 0h0m-36 1h0m4 0h0m43 1h0m11 0h0m5 0h0m-41 1h0m-23 1h0m20 0h0m28 0h0m-57 1h0m13 0h0m1 0h0m38 0h0m-40 1h0m59 0h0m-11 1h0m5 0h0m6 1h0m8 3h0m-63 2h0m2 0h0m44 0h0m6 0h0m0 1h0m12 0h0m-9 3h0m9 0h0m-29 2h0m-10 3h0m27 0h0m-26 1h0m-4 2h0m23 1h0m24 2h0m-7 1h0m-19 1h0m12 7h0" stroke="#8a9028" stroke-width="1.3" stroke-linecap="square"/>
<path d="M877 161h0m3 0h0m15 0h0m-20 2h0m16 0h0m-39 2h0m13 1h0m29 0h0m1 1h0m11 1h0m-12 2h0m-25 1h0m1 3h0m36 0h0m-15 1h0m-52 5h0m12 0h0m6 0h0m3 0h0m16 1h0m-16 1h0m12 0h0m20 0h0m-49 1h0m83 1h0m-47 1h0m-16 1h0m7 0h0m9 1h0m41 0h0m-20 1h0m29 0h0m-29 2h0m-19 1h0m-20 1h0m3 1h0m2 0h0m5 0h0m1 0h0m58 0h0m-69 1h0m7 2h0m18 0h0m37 0h0m-23 2h0m-37 2h0m40 0h0m-28 1h0m55 0h0m-48 2h0m6 0h0m19 0h0m38 0h0m-86 1h0m-1 1h0m29 0h0m16 1h0m24 0h0m-65 1h0m16 0h0m-13 1h0m75 1h0m-64 1h0m40 0h0m4 0h0m-34 1h0m25 0h0m33 0h0m-70 3h0m48 0h0m7 0h0m9 0h0m-22 1h0m29 0h0m1 0h0m-26 1h0m2 0h0m15 0h0m4 0h0m-38 1h0m27 1h0m-53 1h0m48 0h0m-33 1h0m20 1h0m17 3h0m6 1h0m-33 1h0m0 1h0m35 0h0m3 1h0m9 0h0m-6 2h0m10 0h0m-29 1h0m3 0h0m-2 1h0m13 0h0m16 0h0m-39 1h0m-12 2h0m11 0h0m21 3h0m23 0h0m-28 1h0m15 0h0m7 3h0m-6 1h0m-7 4h0m-3 1h0" stroke="#b8b840" stroke-width="1.3" stroke-linecap="square"/>
<path d="M845 158h0m30 2h0m-23 1h0m25 1h0m13 1h0m0 1h0m4 0h0m3 0h0m-4 1h0m9 0h0m-44 1h0m47 0h0m-39 1h0m4 1h0m11 0h0m-20 1h0m43 0h0m-54 1h0m5 0h0m17 0h0m34 0h0m-21 1h0m2 0h0m22 0h0m-68 3h0m28 2h0m44 0h0m-51 1h0m45 0h0m-32 2h0m-34 2h0m46 2h0m-45 1h0m34 0h0m41 1h0m-5 1h0m-66 2h0m12 0h0m46 2h0m-22 1h0m51 0h0m-25 1h0m-58 1h0m7 0h0m0 1h0m14 0h0m6 0h0m25 1h0m-29 1h0m34 0h0m-33 3h0m11 0h0m43 0h0m-6 1h0m-52 1h0m8 0h0m5 1h0m18 2h0m18 0h0m21 1h0m-65 2h0m34 1h0m25 0h0m13 0h0m-58 1h0m25 0h0m-12 1h0m34 1h0m-42 1h0m5 1h0m9 0h0m-27 1h0m58 0h0m-47 4h0m-4 1h0m46 1h0m-15 1h0m8 3h0m24 0h0m-59 1h0m42 2h0m20 0h0m-25 3h0m1 2h0m-18 1h0m33 0h0m-35 1h0m19 0h0m-27 1h0m52 2h0m-39 2h0m41 1h0m-2 2h0m-29 1h0m23 2h0m-8 4h0m7 2h0" stroke="#3a4a30" stroke-width="1.3" stroke-linecap="square"/>
<path d="M850 160h0m34 0h0m-39 4h0m19 0h0m0 1h0m35 1h0m-40 1h0m40 0h0m-26 1h0m-15 1h0m3 0h0m21 0h0m14 2h0m-4 1h0m-12 1h0m17 0h0m-57 2h0m47 0h0m-46 2h0m62 0h0m-40 1h0m9 0h0m29 0h0m15 2h0m-75 1h0m27 0h0m46 0h0m1 0h0m-61 1h0m33 2h0m-5 1h0m42 1h0m-72 1h0m12 0h0m19 0h0m29 0h0m-39 1h0m-22 1h0m16 0h0m64 3h0m-10 1h0m-33 1h0m-1 1h0m19 0h0m-44 1h0m21 0h0m32 0h0m-22 2h0m-34 1h0m41 2h0m7 0h0m7 0h0m10 1h0m16 0h0m-19 1h0m10 2h0m6 0h0m-64 2h0m20 0h0m-1 1h0m-25 1h0m44 0h0m19 0h0m1 0h0m-56 1h0m60 0h0m-43 1h0m6 0h0m15 0h0m19 0h0m-18 1h0m-27 2h0m18 3h0m16 1h0m-6 1h0m12 2h0m17 0h0m-58 1h0m29 1h0m3 0h0m1 0h0m13 2h0m-27 2h0m45 3h0m-29 1h0m-8 1h0m24 0h0m-28 1h0m-10 1h0m3 0h0m37 1h0m-1 1h0m-24 1h0m7 0h0m13 1h0m-10 1h0m17 0h0m12 0h0m-1 2h0m-13 7h0m10 0h0m-6 2h0" stroke="#505a20" stroke-width="1.3" stroke-linecap="square"/>
<path d="M845 160h0m4 2h0m34 0h0m17 1h0m-26 1h0m11 1h0m-9 1h0m-28 1h0m15 2h0m42 3h0m-6 1h0m-58 1h0m54 0h0m5 0h0m-6 1h0m15 0h0m-65 1h0m8 2h0m41 0h0m12 0h0m4 0h0m5 0h0m-65 2h0m29 0h0m-22 3h0m15 0h0m41 0h0m-52 1h0m41 1h0m-41 2h0m45 3h0m1 0h0m23 0h0m4 1h0m-34 1h0m-21 1h0m-28 1h0m55 0h0m26 0h0m-70 2h0m39 0h0m39 0h0m-63 1h0m1 1h0m2 0h0m20 3h0m34 1h0m-5 1h0m4 1h0m-56 1h0m29 0h0m10 0h0m-36 3h0m37 0h0m-50 1h0m40 0h0m17 0h0m-50 2h0m26 0h0m11 0h0m-36 1h0m10 1h0m11 0h0m11 0h0m-26 2h0m37 1h0m-27 1h0m-7 1h0m33 0h0m16 0h0m-43 1h0m35 0h0m-26 3h0m9 1h0m45 1h0m-62 1h0m54 1h0m9 0h0m1 0h0m-37 1h0m14 0h0m14 4h0m-46 1h0m51 0h0m-44 2h0m22 0h0m17 1h0m-21 2h0m29 0h0m1 0h0m-44 1h0m16 3h0m5 3h0" stroke="#6a7a28" stroke-width="1.3" stroke-linecap="square"/>
<path d="M879 160h0m-33 3h0m48 0h0m-28 1h0m27 0h0m4 3h0m-48 1h0m-3 1h0m26 0h0m-6 1h0m-27 1h0m47 0h0m17 1h0m-15 1h0m-5 2h0m1 0h0m-21 1h0m19 0h0m-14 3h0m2 0h0m7 0h0m10 0h0m-22 3h0m51 0h0m-4 1h0m4 0h0m-32 2h0m19 0h0m-60 1h0m48 0h0m-5 1h0m42 3h0m-33 2h0m-36 1h0m6 0h0m4 1h0m5 0h0m47 0h0m-38 2h0m1 0h0m15 0h0m-30 2h0m38 0h0m-22 1h0m26 0h0m-25 1h0m14 0h0m28 1h0m4 0h0m-39 1h0m44 0h0m-47 1h0m27 0h0m13 0h0m-51 2h0m14 0h0m-22 1h0m1 0h0m72 0h0m-64 4h0m40 0h0m14 0h0m2 0h0m-54 1h0m61 0h0m-25 2h0m15 1h0m10 0h0m-65 1h0m13 0h0m22 0h0m3 0h0m-1 2h0m8 0h0m-31 3h0m50 2h0m-5 1h0m-50 1h0m50 1h0m-31 2h0m2 0h0m20 0h0m15 0h0m-13 1h0m-35 1h0m17 0h0m11 0h0m34 1h0m-41 1h0m16 1h0m21 1h0m-31 2h0m21 3h0m-10 3h0m-4 1h0m25 0h0m2 0h0m-7 4h0m0 2h0" stroke="#a0a030" stroke-width="1.3" stroke-linecap="square"/>
<path d="M950 170h0m-24 2h0m-63 1h0m-5 2h0m75 3h0m-77 1h0m88 0h0m-5 2h0m7 0h0m-13 1h0m-69 2h0m49 1h0m29 0h0m-23 9h0m-48 4h0m-18 1h0m78 0h0m-6 1h0m-75 1h0m25 1h0m33 1h0m42 0h0m-73 1h0m9 1h0m40 0h0m-37 2h0m-2 2h0m53 1h0m-65 2h0m4 0h0m-7 1h0m67 0h0m-83 3h0m47 3h0m-12 2h0m35 2h0m-66 1h0m95 0h0m-93 3h0m82 0h0m9 2h0m-99 3h0m69 0h0m-65 1h0m8 0h0m37 1h0m40 0h0m16 0h0m-46 1h0m22 1h0m-42 2h0m10 0h0m-25 1h0m47 2h0m-2 2h0m-30 2h0m-33 1h0m26 2h0m59 1h0" stroke="#a0a030" stroke-width="1.2" stroke-linecap="square"/>
<path d="M935 174h0m-27 1h0m-3 2h0m13 0h0m-12 9h0m39 2h0m5 0h0m-82 2h0m37 1h0m3 0h0m-51 1h0m68 0h0m13 3h0m-19 6h0m9 0h0m15 1h0m15 1h0m-10 1h0m-4 2h0m9 0h0m-53 1h0m-30 3h0m-8 6h0m46 0h0m-37 5h0m27 0h0m16 0h0m17 1h0m6 0h0m23 2h0m-60 3h0m-43 1h0m80 0h0m-14 1h0m4 0h0m-3 3h0m-29 4h0m-29 2h0m19 2h0m57 0h0m-44 1h0m53 5h0" stroke="#c0b848" stroke-width="1.2" stroke-linecap="square"/>
<path d="M897 171h0m48 0h0m-2 4h0m-47 2h0m-40 2h0m33 0h0m-14 3h0m35 1h0m-36 1h0m73 0h0m-13 2h0m-56 3h0m51 4h0m26 0h0m-53 2h0m13 0h0m-51 4h0m21 3h0m-35 2h0m58 3h0m8 3h0m31 2h0m-33 1h0m13 1h0m-69 1h0m56 2h0m37 2h0m-90 2h0m85 1h0m-88 3h0m87 3h0m10 3h0m-89 1h0m37 0h0m-47 2h0m23 0h0m24 1h0m1 0h0m-32 1h0m-18 2h0m36 1h0m29 1h0m-43 3h0m-5 2h0m35 0h0m-23 1h0m18 1h0m-45 2h0m11 0h0" stroke="#8a9028" stroke-width="1.2" stroke-linecap="square"/>
<path d="M661 236h0m17 1h0m-24 2h0m21 0h0m-14 2h0m12 0h0m6 2h0m5 0h0m-22 1h0m7 1h0m18 6h0m-13 3h0m9 1h0m-5 1h0m5 4h0m7 0h0m0 2h0m-5 1h0m7 1h0m-1 2h0" stroke="#d0b890" stroke-width="1.8" stroke-linecap="square"/>
<path d="M668 230h0m-3 4h0m3 0h0m7 3h0m-10 2h0m13 5h0m-2 2h0m7 2h0m9 0h0m-13 2h0m3 2h0m4 1h0m-10 1h0m-4 1h0m12 2h0m4 8h0" stroke="#e0d0b0" stroke-width="1.8" stroke-linecap="square"/>
<path d="M662 233h0m14 4h0m-19 1h0m20 0h0m-22 1h0m22 0h0m0 2h0m-7 4h0m4 0h0m3 0h0m-11 1h0m0 2h0m11 0h0m-5 4h0m22 0h0m-3 1h0m-16 2h0m5 0h0m-1 5h0m7 0h0m4 0h0m-2 3h0" stroke="#a89070" stroke-width="1.8" stroke-linecap="square"/>
<path d="M674 231h0m-9 1h0m1 0h0m-2 1h0m-8 3h0m5 0h0m10 1h0m3 1h0m-18 1h0m5 0h0m-3 1h0m0 1h0m20 1h0m4 1h0m-13 1h0m2 4h0m-5 1h0m26 1h0m-25 1h0m4 0h0m-1 1h0m1 2h0m7 2h0m15 0h0m-17 3h0m12 4h0" stroke="#b89c74" stroke-width="1.8" stroke-linecap="square"/>
<path d="M673 230h0m-7 1h0m5 1h0m-4 2h0m11 0h0m0 2h0m-13 1h0m-4 1h0m3 2h0m-8 1h0m27 0h0m-21 2h0m7 2h0m2 1h0m1 0h0m7 0h0m-11 1h0m18 1h0m2 0h0m-19 2h0m2 0h0m15 0h0m1 0h0m5 5h0m-6 4h0m2 329h0m1 0h0m5 0h0m-16 3h0m12 1h0m1 0h0m-14 2h0m8 0h0m3 0h0m4 0h0m-4 1h0m0 1h0m6 0h0m1 0h0m-11 1h0m7 0h0m-13 1h0m8 0h0m7 0h0m1 0h0m-16 1h0m7 1h0m-7 2h0m6 1h0m7 0h0m-8 1h0m12 0h0m-3 1h0m2 0h0m-13 1h0m9 0h0m-3 1h0m4 0h0m-1 2h0m4 0h0m-13 1h0m3 1h0m-8 1h0m7 0h0m7 0h0m1 0h0m-9 1h0m5 0h0m5 0h0m-15 1h0m4 0h0m-2 3h0m1 0h0m8 0h0m3 1h0m3 2h0m-11 2h0m-1 1h0m-6 2h0m5 0h0m1 0h0m-2 1h0m3 0h0m-5 1h0m-3 1h0m1 1h0m8 1h0m5 1h0m-9 1h0m2 0h0m2 0h0m1 0h0m-1 1h0m2 1h0m4 0h0" stroke="#c0a880" stroke-width="1.8" stroke-linecap="square"/>
<path d="M664 232h0m-1 3h0m-8 3h0m-1 1h0m25 3h0m-8 2h0m4 0h0m7 0h0m-20 1h0m25 0h0m-2 4h0m-3 1h0m-13 3h0m10 0h0m1 2h0m-5 1h0" stroke="#8a7458" stroke-width="1.8" stroke-linecap="square"/>
<path d="M690 203h0m65 1h0m-32 6h0m-85 2h0m28 1h0m75 2h0m-39 1h0m-22 2h0m45 1h0m-91 1h0m2 3h0m40 1h0m-15 7h0m-17 2h0m100 1h0m1 1h0m-25 3h0m-38 1h0m44 1h0m-56 1h0m44 1h0m-67 5h0m15 0h0m16 0h0m30 3h0m-78 3h0m91 0h0m36 1h0m-72 1h0m-8 1h0m24 0h0m4 2h0m-33 1h0m16 0h0m19 1h0m-24 7h0m24 0h0m51 1h0m-6 1h0m-1 4h0m-91 4h0m74 4h0m10 2h0m-106 1h0m60 0h0m53 0h0m-64 1h0m30 2h0m40 0h0m-107 2h0m105 0h0m-107 2h0m87 0h0m-13 3h0m7 3h0m-43 2h0m-22 4h0m46 0h0m20 1h0m-64 1h0m19 5h0m40 1h0m-55 3h0m15 2h0m-13 6h0m83 3h0m-90 2h0m1 4h0m60 0h0m0 5h0m-70 1h0m39 0h0m50 0h0m9 6h0m-100 5h0m15 0h0m32 2h0m35 1h0m-62 1h0m54 1h0m128 208h0m-180 1h0m44 4h0m25 3h0m13 0h0m91 1h0m-190 1h0m94 0h0m-109 3h0m49 3h0m141 2h0m-76 3h0m100 0h0m-171 1h0m124 0h0m-170 2h0m135 5h0m-92 1h0m31 0h0m-8 1h0m13 4h0m109 2h0m-86 2h0m-69 4h0m144 2h0m-164 3h0m160 0h0m-166 3h0m84 5h0m37 0h0m-29 1h0m29 1h0m60 1h0m33 1h0m-192 2h0m38 0h0m91 1h0m81 0h0m-23 1h0m-203 1h0m203 1h0m-104 2h0m-72 2h0m156 0h0m-91 1h0m54 4h0m-73 1h0m130 3h0m-74 1h0m24 0h0m13 5h0m-19 1h0m12 0h0m-82 4h0m35 6h0m-44 2h0m-63 1h0m5 0h0m144 1h0m-6 2h0m-26 3h0m43 0h0m32 0h0m-126 1h0m141 0h0m-116 2h0m-103 2h0m115 1h0m34 0h0m-143 3h0m101 2h0m102 3h0m-82 1h0m20 4h0m54 0h0m-125 2h0m125 1h0m22 0h0m-194 1h0m161 5h0" stroke="#e0d8d0" stroke-width="1.2" stroke-linecap="square"/>
<path d="M727 201h0m-12 4h0m-6 1h0m-26 2h0m18 2h0m-49 3h0m43 1h0m62 4h0m-113 2h0m2 4h0m73 2h0m20 0h0m10 0h0m-77 2h0m-24 1h0m38 0h0m49 0h0m4 1h0m-76 6h0m64 8h0m-75 1h0m12 4h0m63 0h0m25 0h0m-30 1h0m-23 3h0m-44 1h0m49 2h0m-70 2h0m58 0h0m-24 3h0m70 0h0m-42 1h0m-1 1h0m44 3h0m10 0h0m-85 1h0m13 3h0m30 2h0m29 0h0m12 2h0m-105 3h0m87 7h0m22 0h0m-121 5h0m71 0h0m-10 4h0m19 0h0m36 1h0m-92 2h0m99 4h0m4 0h0m-66 4h0m3 1h0m-19 2h0m48 1h0m4 1h0m-81 5h0m68 0h0m-5 1h0m-52 4h0m-25 2h0m110 2h0m-63 3h0m27 2h0m-71 4h0m4 5h0m-6 3h0m62 0h0m-54 1h0m99 0h0m-105 1h0m35 1h0m16 0h0m48 2h0m-12 2h0m-25 4h0m56 1h0m-80 5h0m1 206h0m52 0h0m37 1h0m1 5h0m88 1h0m-193 3h0m34 1h0m7 1h0m27 0h0m30 0h0m44 0h0m-83 7h0m143 0h0m-188 3h0m74 3h0m-60 2h0m-46 2h0m5 2h0m160 0h0m-74 2h0m35 2h0m-80 2h0m118 1h0m-123 4h0m136 1h0m-52 5h0m-123 1h0m222 0h0m-179 1h0m106 0h0m8 0h0m43 8h0m22 1h0m-100 1h0m-36 1h0m49 4h0m-21 1h0m-75 1h0m9 2h0m77 0h0m-12 1h0m-92 8h0m49 0h0m-40 1h0m86 0h0m-110 2h0m101 8h0m-91 2h0m36 0h0m33 1h0m27 4h0m101 4h0m19 1h0m-211 4h0m204 0h0m-58 1h0m-99 2h0m18 3h0m100 1h0m-116 2h0m56 3h0m71 1h0m-159 1h0m142 2h0m-40 1h0m-124 2h0m189 0h0m-142 2h0m78 0h0m85 1h0m-97 2h0m25 1h0m65 2h0" stroke="#c0a080" stroke-width="1.2" stroke-linecap="square"/>
<path d="M752 201h0m-32 5h0m10 2h0m-88 2h0m109 0h0m-116 1h0m86 1h0m-79 1h0m112 1h0m-49 3h0m-66 9h0m-7 1h0m120 0h0m-105 1h0m54 0h0m-31 1h0m38 1h0m-19 5h0m57 0h0m-78 4h0m73 4h0m-31 1h0m-50 4h0m73 0h0m-53 2h0m41 0h0m-69 2h0m101 3h0m-49 1h0m-19 1h0m57 1h0m-95 9h0m21 0h0m28 3h0m4 0h0m11 0h0m-75 1h0m124 0h0m-43 2h0m26 2h0m-91 3h0m14 0h0m64 1h0m-94 11h0m71 0h0m-40 1h0m91 2h0m-116 2h0m39 3h0m-8 3h0m-13 1h0m96 0h0m-32 1h0m30 2h0m-55 2h0m49 0h0m-101 3h0m98 0h0m7 0h0m-66 6h0m11 0h0m12 1h0m-16 3h0m38 0h0m13 2h0m-33 3h0m-67 2h0m23 0h0m34 1h0m-8 7h0m40 1h0m-92 2h0m76 1h0m-9 2h0m12 2h0m23 2h0m-23 8h0m9 0h0m-37 1h0m-12 2h0m-7 2h0m74 0h0m-31 1h0m-51 1h0" stroke="#f0f0f0" stroke-width="1.2" stroke-linecap="square"/>
<path d="M748 468h0m2 1h0m4 2h0m-2 2h0m0 3h0m-2 2h0" stroke="#6a5080" stroke-width="1.5" stroke-linecap="square"/>
<path d="M751 462h0m2 1h0m-2 1h0m3 1h0m-4 2h0m7 0h0m-3 3h0m-2 2h0m-3 2h0m1 1h0m1 2h0m1 1h0" stroke="#7a7898" stroke-width="1.5" stroke-linecap="square"/>
<path d="M754 463h0m-4 5h0m0 4h0m4 4h0m28 179h0m-5 1h0m-1 1h0m21 0h0m2 1h0m-9 1h0m-5 1h0m15 1h0m-12 1h0m-10 22h0m4 1h0m1 0h0m-2 1h0m5 1h0m9 1h0m-16 2h0m-3 1h0m7 1h0m13 3h0" stroke="#201820" stroke-width="1.5" stroke-linecap="square"/>
<path d="M751 463h0m1 2h0m1 2h0m0 4h0m-1 1h0m2 0h0m-2 3h0m-2 1h0m1 2h0m0 1h0m31 176h0m-6 1h0m15 0h0m-8 1h0m0 1h0m8 0h0m4 0h0m-9 1h0m8 0h0m-5 2h0m1 25h0m-3 3h0m-6 1h0m7 0h0m2 0h0m-6 2h0" stroke="#4a4048" stroke-width="1.5" stroke-linecap="square"/>
<path d="M752 461h0m-1 3h0m-1 1h0m-1 3h0m3 7h0m31 180h0m4 3h0m13 1h0m2 0h0m-8 1h0m-11 1h0m14 0h0m4 0h0m2 0h0m-23 24h0m2 1h0m7 0h0m1 2h0m1 0h0m0 1h0m2 1h0m3 0h0m-20 1h0m10 0h0" stroke="#6a5a58" stroke-width="1.5" stroke-linecap="square"/>
<path d="M810 381h0m-60 4h0m28 0h0m-42 1h0m41 0h0m-25 1h0m-21 3h0m61 3h0m-34 2h0m97 0h0m-122 2h0m127 0h0m-126 5h0m3 6h0m32 1h0m87 1h0m-144 1h0m129 2h0m-46 3h0m-55 4h0m104 0h0m-98 5h0m-39 1h0m-1 2h0m91 4h0m-54 2h0m4 0h0m62 0h0m45 1h0m-9 6h0m-137 2h0m0 5h0m99 0h0m-30 1h0m51 3h0m-58 1h0m33 2h0m52 11h0m-118 1h0m65 2h0m47 4h0m-36 1h0m363 0h0m-419 1h0m18 2h0m41 2h0m11 6h0m358 0h0m-349 2h0m9 0h0m355 0h0m-366 2h0m8 7h0m362 0h0m4 1h0m-355 1h0m-65 1h0m414 1h0m-26 1h0m-420 2h0m102 0h0m-44 1h0m4 0h0m34 2h0m-95 1h0m-36 1h0m457 0h0m-382 3h0m15 0h0m44 0h0m-61 1h0m378 0h0m-410 2h0m6 2h0m-3 4h0m75 1h0m-105 2h0m54 1h0m26 1h0m-39 3h0m5 0h0m7 1h0m55 1h0m371 0h0m-376 1h0m-85 5h0m59 0h0m42 1h0m-54 4h0m25 1h0m-113 3h0m91 4h0m20 1h0m-88 9h0m76 0h0" stroke="#203040" stroke-width="1.3" stroke-linecap="square"/>
<path d="M765 390h0m-44 1h0m93 1h0m-65 1h0m78 0h0m-109 2h0m43 5h0m80 0h0m-59 3h0m-33 5h0m-3 2h0m27 0h0m6 2h0m17 1h0m-44 1h0m7 0h0m38 0h0m-70 1h0m30 0h0m2 4h0m74 1h0m-28 1h0m4 0h0m-40 1h0m81 1h0m-32 3h0m-59 4h0m16 0h0m-71 1h0m139 1h0m-117 3h0m99 0h0m-35 2h0m30 1h0m-54 2h0m36 1h0m-21 2h0m68 3h0m-3 2h0m-38 2h0m-61 2h0m98 3h0m-135 4h0m9 0h0m88 0h0m-53 1h0m55 0h0m2 2h0m5 2h0m29 1h0m-77 2h0m6 2h0m79 1h0m-36 3h0m-106 1h0m46 1h0m15 1h0m70 4h0m-50 1h0m-36 1h0m-17 1h0m77 2h0m-49 1h0m38 4h0m-53 1h0m-11 1h0m-15 2h0m73 3h0m-62 4h0m-10 1h0m31 0h0m66 1h0m10 3h0m-130 1h0m-3 1h0m35 1h0m8 1h0m12 2h0m101 1h0m-145 4h0m75 0h0m20 1h0m5 2h0m13 0h0m-107 2h0m122 0h0m-88 1h0m17 4h0m36 1h0m38 0h0m-115 1h0m52 5h0m27 0h0m49 3h0m-51 3h0m-65 3h0m-39 1h0m62 0h0m-1 2h0m-11 1h0m-31 3h0m31 0h0m75 0h0m-41 3h0m-14 2h0" stroke="#e0d8d0" stroke-width="1.3" stroke-linecap="square"/>
<path d="M764 381h0m45 1h0m-40 1h0m12 5h0m-47 3h0m-28 2h0m68 1h0m-3 3h0m12 0h0m-7 1h0m-53 9h0m15 12h0m89 0h0m-82 1h0m-34 2h0m113 2h0m-100 2h0m4 3h0m9 2h0m31 0h0m32 6h0m-99 5h0m130 4h0m-95 1h0m3 1h0m-10 3h0m68 3h0m40 1h0m-87 3h0m79 2h0m11 0h0m-88 3h0m-6 1h0m78 1h0m-55 8h0m67 1h0m-96 2h0m67 8h0m-86 1h0m58 2h0m45 3h0m-82 10h0m54 1h0m21 1h0m-35 1h0m21 0h0m17 4h0m-70 2h0m10 4h0m3 6h0m-31 1h0m87 3h0m-93 5h0m61 5h0m-59 10h0m37 3h0m-18 4h0m7 7h0m7 0h0m-15 3h0" stroke="#c08060" stroke-width="1.3" stroke-linecap="square"/>
<path d="M765 381h0m48 0h0m-106 3h0m114 0h0m-64 4h0m1 3h0m27 6h0m-61 9h0m35 5h0m63 8h0m-101 4h0m88 0h0m-89 5h0m121 9h0m18 0h0m-62 14h0m-92 1h0m37 3h0m55 1h0m17 2h0m-92 8h0m129 5h0m-98 8h0m25 1h0m75 5h0m-78 2h0m1 0h0m23 5h0m-91 1h0m111 0h0m-3 1h0m36 1h0m-91 1h0m-20 2h0m70 0h0m-77 2h0m121 0h0m-17 4h0m-36 8h0m-47 4h0m-28 4h0m74 0h0m0 9h0m-91 2h0m25 4h0m51 0h0m-21 4h0m-50 2h0m26 1h0m60 0h0m37 4h0m-110 8h0m49 6h0" stroke="#d8a080" stroke-width="1.3" stroke-linecap="square"/>
<path d="M859 382h0m-19 1h0m-75 1h0m25 2h0m-14 2h0m22 2h0m47 0h0m-101 1h0m105 2h0m-89 2h0m56 0h0m-113 1h0m16 0h0m-1 5h0m131 3h0m-12 1h0m-81 5h0m-24 3h0m85 2h0m-112 3h0m25 2h0m63 0h0m17 0h0m8 1h0m-105 3h0m116 3h0m-3 5h0m-99 1h0m67 1h0m-52 7h0m117 4h0m-106 1h0m19 1h0m47 0h0m1 0h0m-33 4h0m-78 1h0m31 0h0m32 0h0m-35 5h0m39 1h0m31 1h0m-92 1h0m-12 4h0m72 0h0m-75 1h0m9 4h0m83 1h0m2 4h0m54 1h0m-115 5h0m-13 6h0m10 1h0m79 4h0m-17 2h0m38 1h0m30 11h0m-76 2h0m67 2h0m-108 2h0m52 1h0m-83 2h0m27 2h0m46 0h0m-81 2h0m86 1h0m-25 2h0m-8 5h0m18 1h0m59 3h0m-110 5h0m26 0h0m56 11h0m-74 1h0m85 5h0m-41 4h0" stroke="#a06848" stroke-width="1.3" stroke-linecap="square"/>
<path d="M723 373h0m1 1h0m41 0h0m1 0h0m-41 1h0m29 12h0m59 0h0m-59 1h0m58 0h0m1 0h0m-1 1h0m-58 1h0m56 0h0m1 0h0m-1 1h0m-4 21h0m3 2h0m1 0h0m-13 4h0m1 1h0m-4 11h0m1 2h0m-48 1h0m47 0h0m-46 1h0m3 0h0m53 3h0m1 0h0m-1 1h0m4 0h0m-12 1h0m-3 2h0m10 0h0m28 5h0m-1 1h0m4 0h0m1 0h0m-6 1h0m27 0h0m1 0h0m-30 1h0m10 0h0m18 0h0m-40 8h0m0 1h0m1 0h0m0 9h0m-1 1h0m1 2h0m-18 2h0m-70 1h0m68 0h0m-68 2h0m91 1h0m-99 1h0m8 0h0m92 0h0m34 0h0m-126 1h0m-9 2h0m0 1h0m130 0h0m3 0h0m-1 1h0m1 1h0m1 0h0m-95 3h0m1 0h0m1 0h0m-15 1h0m16 0h0m-18 1h0m-1 1h0m8 0h0m12 0h0m-21 1h0m-9 1h0m126 0h0m-128 1h0m1 0h0m-38 3h0m1 0h0m1 3h0m0 1h0m128 0h0m-127 1h0m127 0h0m1 1h0m-21 2h0m3 0h0m1 0h0m-2 1h0m-91 17h0m92 0h0m1 1h0m-93 2h0m94 0h0m-105 2h0m69 0h0m1 0h0m-71 1h0m72 0h0m1 0h0m-77 1h0m26 0h0m-28 1h0m1 0h0m26 1h0m-1 1h0m85 0h0m1 0h0m-86 2h0m76 12h0m0 1h0m1 0h0m-64 1h0m3 0h0m61 0h0m-3 1h0m0 1h0m0 1h0m-1 1h0m1 0h0m-63 9h0m-4 7h0" stroke="#c08060" stroke-width="1.1" stroke-linecap="square"/>
<path d="M723 373h0m42 0h0m-41 1h0m40 0h0m1 1h0m-12 12h0m60 1h0m-58 1h0m57 0h0m-1 1h0m-5 22h0m2 0h0m2 2h0m1 0h0m1 1h0m1 0h0m-20 3h0m1 0h0m1 0h0m1 0h0m1 1h0m-3 12h0m0 1h0m-47 1h0m1 0h0m1 0h0m0 1h0m49 3h0m7 0h0m1 0h0m-9 1h0m5 0h0m2 0h0m2 0h0m1 0h0m-12 1h0m9 0h0m-1 1h0m1 0h0m-12 1h0m0 1h0m42 4h0m1 1h0m-7 1h0m1 0h0m26 0h0m1 0h0m-19 1h0m1 0h0m18 0h0m-41 8h0m1 0h0m-1 12h0m2 2h0m-18 1h0m18 0h0m-20 1h0m1 0h0m-3 1h0m23 0h0m1 0h0m-91 1h0m65 0h0m25 0h0m-91 1h0m1 1h0m-9 1h0m1 0h0m7 0h0m125 0h0m1 0h0m-134 1h0m133 0h0m-133 1h0m0 1h0m130 0h0m1 0h0m1 1h0m-92 4h0m-16 1h0m1 0h0m6 2h0m-9 1h0m7 0h0m110 0h0m1 0h0m-128 1h0m8 0h0m-8 1h0m8 0h0m-46 1h0m0 1h0m1 2h0m1 3h0m128 1h0m0 1h0m-19 2h0m1 0h0m0 1h0m0 15h0m-92 3h0m1 0h0m92 0h0m-92 2h0m94 0h0m-105 2h0m69 0h0m-70 1h0m-3 1h0m109 3h0m-86 1h0m84 0h0m-84 1h0m76 13h0m-62 1h0m1 0h0m0 1h0m3 0h0m56 3h0m-64 10h0m0 1h0m0 1h0m-2 2h0" stroke="#d8a888" stroke-width="1.1" stroke-linecap="square"/>
<path d="M723 373h0m0 1h0m42 0h0m0 1h0m-12 12h0m1 0h0m59 1h0m-59 1h0m57 0h0m-56 1h0m55 0h0m0 1h0m-4 21h0m3 1h0m1 0h0m2 2h0m0 1h0m-20 2h0m1 0h0m1 0h0m2 0h0m3 1h0m-5 12h0m-45 3h0m1 0h0m2 1h0m51 3h0m1 0h0m3 0h0m-12 1h0m-1 1h0m1 0h0m8 0h0m-11 1h0m1 0h0m1 0h0m9 0h0m-10 1h0m36 5h0m5 0h0m2 1h0m-9 1h0m1 0h0m9 0h0m17 0h0m-38 8h0m-3 1h0m2 0h0m1 0h0m-1 10h0m1 2h0m1 2h0m-20 1h0m21 1h0m-25 1h0m25 0h0m-90 1h0m65 0h0m26 0h0m35 0h0m-135 1h0m100 1h0m33 0h0m1 0h0m-133 1h0m100 0h0m32 0h0m-2 3h0m-92 4h0m-14 1h0m6 1h0m1 0h0m10 0h0m1 0h0m-20 1h0m7 0h0m14 0h0m-23 1h0m9 0h0m110 0h0m-3 1h0m-125 1h0m8 0h0m-44 6h0m0 1h0m1 1h0m126 0h0m-126 1h0m127 0h0m0 1h0m-19 2h0m1 15h0m-92 2h0m93 0h0m1 1h0m-93 2h0m94 0h0m-36 1h0m-1 1h0m2 0h0m35 0h0m-106 1h0m-4 1h0m1 0h0m-3 1h0m27 0h0m-28 1h0m27 1h0m1 0h0m83 0h0m0 1h0m-84 2h0m76 11h0m-64 1h0m1 1h0m1 0h0m3 1h0m1 0h0m59 0h0m-3 1h0m-63 11h0m-2 3h0m-1 1h0m1 0h0m-1 1h0m-1 2h0" stroke="#f0e0d0" stroke-width="1.1" stroke-linecap="square"/>
<path d="M681 571h0m8 0h0m1 0h0m-9 1h0m1 0h0m6 0h0m-8 1h0m34 0h0m-21 1h0m16 0h0m5 0h0m3 0h0m1 0h0m3 0h0m7 0h0m-43 1h0m42 0h0m4 0h0m-21 1h0m17 0h0m22 0h0m-64 1h0m8 0h0m1 0h0m13 0h0m4 0h0m13 0h0m-40 1h0m6 0h0m20 0h0m2 0h0m29 0h0m-46 1h0m24 0h0m2 0h0m-36 1h0m4 0h0m6 0h0m20 0h0m11 0h0m20 0h0m-47 1h0m13 0h0m1 0h0m-33 1h0m13 0h0m28 0h0m11 0h0m1 0h0m11 0h0m-3 1h0m5 0h0m7 0h0m-68 1h0m3 0h0m14 0h0m2 0h0m20 0h0m1 0h0m15 0h0m10 0h0m6 0h0m1 0h0m-72 1h0m7 0h0m4 0h0m1 0h0m9 0h0m2 0h0m32 0h0m-17 1h0m6 0h0m3 0h0m5 1h0m15 1h0" stroke="#6a5a4a" stroke-width="1.8" stroke-linecap="square"/>
<path d="M679 570h0m10 1h0m-3 2h0m8 0h0m3 0h0m8 0h0m3 0h0m7 0h0m-16 2h0m11 0h0m3 0h0m5 0h0m-24 1h0m19 0h0m6 0h0m-27 1h0m18 0h0m13 0h0m1 0h0m4 0h0m10 0h0m16 0h0m-71 1h0m34 0h0m7 0h0m12 0h0m17 0h0m-58 1h0m32 0h0m4 0h0m12 0h0m7 0h0m2 0h0m1 0h0m-65 1h0m22 0h0m5 0h0m2 0h0m35 0h0m5 0h0m1 0h0m-74 1h0m10 0h0m6 0h0m2 0h0m9 0h0m9 0h0m1 0h0m29 0h0m-65 1h0m4 0h0m13 0h0m11 0h0m2 0h0m2 0h0m8 0h0m15 0h0m11 0h0m-64 1h0m26 0h0m8 0h0m7 0h0m9 0h0m8 0h0m-64 1h0m7 0h0m9 0h0m9 0h0m2 0h0m1 0h0m40 0h0m5 0h0m-72 1h0m9 0h0m7 0h0m2 0h0m11 0h0m10 0h0m16 0h0m0 2h0m6 0h0m11 0h0" stroke="#9a8a74" stroke-width="1.8" stroke-linecap="square"/>
<path d="M690 571h0m-8 1h0m14 0h0m11 1h0m8 0h0m-35 1h0m8 0h0m1 0h0m7 0h0m3 0h0m5 0h0m-17 1h0m4 0h0m17 0h0m23 0h0m3 0h0m-52 1h0m9 0h0m5 0h0m3 0h0m6 0h0m11 0h0m20 0h0m-42 1h0m24 0h0m1 0h0m2 0h0m17 0h0m-49 1h0m20 0h0m15 0h0m-40 1h0m1 0h0m23 0h0m27 0h0m9 0h0m-52 1h0m42 0h0m20 0h0m-73 1h0m2 0h0m20 0h0m34 0h0m-52 1h0m27 0h0m8 0h0m-35 1h0m4 0h0m6 0h0m10 0h0m14 0h0m11 0h0m18 0h0m-64 1h0m10 0h0m10 0h0m2 0h0m15 0h0m6 0h0m2 0h0m27 0h0m-57 1h0m7 0h0m15 0h0m15 0h0m6 0h0m-32 1h0m47 0h0m-15 1h0" stroke="#b0a088" stroke-width="1.8" stroke-linecap="square"/>
<path d="M682 570h0m1 0h0m-1 1h0m15 1h0m8 0h0m-24 1h0m17 0h0m9 0h0m6 0h0m7 0h0m-37 1h0m26 0h0m5 0h0m-10 1h0m4 0h0m24 0h0m-38 1h0m35 0h0m2 0h0m5 0h0m10 0h0m-65 1h0m9 0h0m12 0h0m11 0h0m10 0h0m3 0h0m13 0h0m6 0h0m8 0h0m-65 1h0m5 0h0m43 0h0m13 0h0m1 0h0m-28 1h0m3 0h0m4 0h0m-43 1h0m21 0h0m2 0h0m8 0h0m1 0h0m29 0h0m8 0h0m2 0h0m-62 1h0m4 0h0m7 0h0m11 0h0m18 0h0m5 0h0m-44 1h0m27 0h0m11 0h0m3 0h0m3 0h0m4 0h0m-44 1h0m2 0h0m6 0h0m9 0h0m-28 1h0m22 0h0m22 0h0m19 0h0m1 0h0m4 0h0m-61 1h0m21 0h0m2 0h0m1 0h0m21 0h0m-36 1h0m30 0h0m3 0h0m4 0h0m3 0h0m3 0h0m1 1h0" stroke="#8a7a68" stroke-width="1.8" stroke-linecap="square"/>
<path d="M693 585h0m3 0h0m-5 2h0m-1 1h0m14 0h0m17 0h0m6 0h0m17 0h0m3 0h0m5 0h0m-63 1h0m62 0h0m-55 1h0m21 0h0m5 0h0m13 0h0m20 0h0m-63 1h0m32 0h0m18 0h0m6 0h0m-34 1h0m1 1h0m-20 1h0m18 0h0m3 0h0m-17 1h0m1 0h0m7 1h0m16 0h0m12 0h0m1 0h0m-44 1h0m9 0h0m14 0h0m12 0h0m18 0h0m-53 1h0m5 0h0m3 0h0m36 0h0m2 0h0m10 0h0m-54 1h0m12 0h0m24 0h0m4 0h0m-38 1h0m11 0h0m7 0h0m14 0h0m2 0h0m4 0h0m10 0h0m2 0h0m-55 1h0m31 0h0m22 0h0m4 0h0m1 0h0m2 0h0m-32 1h0m7 0h0m25 0h0m4 1h0" stroke="#4a4a5a" stroke-width="1.8" stroke-linecap="square"/>
<path d="M695 585h0m-3 1h0m6 1h0m20 0h0m2 0h0m14 0h0m-43 1h0m3 0h0m9 0h0m10 0h0m7 0h0m2 0h0m1 0h0m-33 1h0m25 0h0m2 0h0m27 0h0m7 0h0m-63 1h0m5 0h0m7 0h0m28 0h0m11 0h0m-29 1h0m34 0h0m-30 1h0m-19 1h0m8 0h0m9 0h0m19 0h0m-40 1h0m7 0h0m39 0h0m-39 1h0m2 0h0m3 0h0m15 0h0m28 0h0m-24 1h0m5 0h0m3 0h0m6 0h0m10 0h0m-44 1h0m4 0h0m7 0h0m3 0h0m4 0h0m1 0h0m34 0h0m-58 1h0m15 0h0m6 0h0m-18 1h0m2 0h0m32 0h0m-32 1h0m19 0h0m18 0h0m-40 1h0m4 0h0m7 0h0m3 0h0m16 0h0m14 0h0m8 0h0m-38 1h0m11 0h0m3 0h0m2 0h0m14 0h0m9 0h0" stroke="#5a6078" stroke-width="1.8" stroke-linecap="square"/>
<path d="M705 585h0m-3 1h0m8 0h0m8 0h0m4 2h0m-29 1h0m6 0h0m36 0h0m-42 1h0m2 0h0m4 0h0m11 0h0m24 0h0m12 0h0m7 0h0m-62 1h0m2 0h0m33 0h0m7 0h0m5 0h0m11 0h0m-40 1h0m20 0h0m-22 1h0m1 0h0m37 0h0m-49 1h0m19 0h0m7 0h0m10 0h0m5 0h0m3 0h0m7 0h0m-53 1h0m6 0h0m10 0h0m13 0h0m-31 1h0m13 0h0m20 0h0m4 0h0m10 0h0m7 0h0m2 0h0m-48 1h0m11 0h0m13 0h0m-16 1h0m4 0h0m39 0h0m3 0h0m-59 1h0m38 0h0m3 1h0m4 0h0m9 0h0m-42 1h0m20 0h0m9 0h0m9 0h0m-34 1h0m16 0h0m1 0h0m9 0h0m5 1h0m12 1h0" stroke="#a8acc0" stroke-width="1.8" stroke-linecap="square"/>
<path d="M694 585h0m21 1h0m1 0h0m-16 1h0m1 0h0m4 0h0m24 0h0m-35 1h0m2 0h0m2 0h0m7 0h0m4 0h0m1 0h0m6 0h0m28 0h0m-53 1h0m7 0h0m16 0h0m3 0h0m17 0h0m3 0h0m4 0h0m-48 1h0m18 0h0m22 0h0m-37 1h0m1 0h0m20 0h0m9 0h0m3 0h0m3 0h0m5 0h0m17 0h0m2 0h0m-54 1h0m19 0h0m4 0h0m14 0h0m1 0h0m4 0h0m10 0h0m-61 1h0m44 0h0m-47 1h0m2 0h0m10 0h0m-7 1h0m4 0h0m1 0h0m17 0h0m-15 1h0m1 0h0m19 0h0m20 0h0m1 0h0m11 0h0m-53 1h0m4 0h0m24 0h0m6 0h0m5 0h0m3 0h0m12 0h0m-48 1h0m1 0h0m36 0h0m1 0h0m3 0h0m1 0h0m7 0h0m-57 1h0m2 0h0m24 0h0m14 0h0m1 0h0m5 0h0m1 0h0m-53 1h0m48 0h0m14 0h0m-58 1h0m5 0h0m1 0h0m45 0h0m5 0h0m-34 1h0m5 0h0m7 0h0m1 0h0m14 0h0m-8 1h0m5 0h0m9 0h0m3 0h0" stroke="#9098b0" stroke-width="1.8" stroke-linecap="square"/>
<path d="M695 585h0m10 1h0m16 0h0m-28 1h0m1 1h0m15 0h0m42 0h0m-52 1h0m4 0h0m29 0h0m3 0h0m-32 1h0m12 0h0m3 0h0m9 0h0m11 0h0m-38 1h0m37 0h0m15 0h0m-63 1h0m8 0h0m1 0h0m11 0h0m19 0h0m4 0h0m5 0h0m13 0h0m1 0h0m1 0h0m3 0h0m-3 1h0m0 1h0m-60 1h0m5 0h0m36 0h0m1 0h0m8 0h0m1 0h0m-50 1h0m20 0h0m5 0h0m-25 1h0m22 0h0m4 0h0m12 0h0m6 0h0m-29 1h0m8 0h0m1 0h0m2 0h0m2 0h0m15 0h0m1 0h0m-36 1h0m4 0h0m14 0h0m9 0h0m9 0h0m7 0h0m-51 1h0m8 0h0m17 0h0m3 0h0m3 0h0m1 1h0m7 0h0m9 0h0m8 0h0m1 0h0m-40 1h0m26 0h0m1 0h0m5 2h0" stroke="#7a8098" stroke-width="1.8" stroke-linecap="square"/>
<path d="M677 586h0m1 0h0m4 0h0m-3 1h0m2 0h0m8 0h0m-3 2h0m-10 3h0m6 0h0m7 0h0m-8 2h0m1 2h0m-2 1h0m10 0h0m3 0h0m-15 1h0m12 0h0m3 0h0m-10 1h0m12 0h0m-16 1h0m0 2h0m-3 2h0m8 2h0m4 0h0m5 1h0m-16 1h0m1 1h0m15 0h0m1 1h0m-5 1h0m-13 2h0m15 0h0m2 0h0m-15 1h0m-1 1h0m-2 1h0m17 0h0m2 0h0m-19 1h0m4 1h0m15 1h0m-15 1h0m5 0h0m11 0h0m-17 1h0m13 1h0m-13 1h0m4 0h0m-1 1h0m6 0h0m6 0h0m-3 1h0m1 0h0m2 0h0m2 0h0m-19 1h0m7 0h0m7 0h0m1 0h0m3 0h0m-10 1h0m8 0h0m-6 1h0m8 0h0m-10 1h0m-2 2h0m1 1h0m-4 1h0m6 0h0m-4 1h0m5 0h0m7 1h0m1 0h0m-2 3h0" stroke="#6a5a48" stroke-width="1.8" stroke-linecap="square"/>
<path d="M683 585h0m2 2h0m6 0h0m1 0h0m-15 1h0m7 0h0m4 0h0m-12 1h0m15 0h0m1 0h0m-16 2h0m10 0h0m-10 1h0m5 0h0m1 0h0m7 0h0m-1 2h0m2 0h0m-14 2h0m18 1h0m-17 1h0m4 0h0m6 0h0m-5 2h0m1 0h0m1 1h0m7 1h0m-9 1h0m3 0h0m-8 1h0m0 1h0m5 0h0m7 1h0m-7 1h0m2 0h0m8 1h0m-10 1h0m2 0h0m-2 2h0m2 0h0m-8 3h0m1 0h0m7 2h0m-4 1h0m7 0h0m2 0h0m-6 1h0m12 0h0m-11 1h0m6 1h0m1 0h0m-12 2h0m11 1h0m2 0h0m2 2h0m-10 1h0m4 2h0m6 0h0m-11 3h0m8 0h0m-4 2h0m-8 2h0m9 0h0m1 0h0m1 0h0m4 0h0" stroke="#a09078" stroke-width="1.8" stroke-linecap="square"/>
<path d="M686 585h0m-8 1h0m1 0h0m13 1h0m-15 1h0m5 0h0m1 0h0m-4 1h0m14 0h0m-15 1h0m11 1h0m-7 1h0m3 0h0m2 1h0m4 2h0m-10 1h0m3 0h0m-4 2h0m12 0h0m-12 1h0m12 2h0m-16 1h0m12 0h0m7 0h0m-2 1h0m-15 2h0m7 0h0m-6 1h0m2 0h0m6 0h0m-7 1h0m-4 1h0m10 1h0m-10 1h0m17 0h0m-12 1h0m2 0h0m5 0h0m-11 2h0m9 1h0m0 1h0m4 0h0m-14 1h0m8 0h0m-7 1h0m13 0h0m-10 1h0m14 0h0m-15 1h0m5 0h0m3 0h0m-8 2h0m8 1h0m3 1h0m4 0h0m-11 1h0m11 1h0m1 1h0m-14 1h0m4 0h0m-5 1h0m7 0h0m1 0h0m2 2h0m-8 1h0m-6 1h0m0 1h0m13 0h0m1 0h0m-6 2h0m2 0h0m-9 1h0m7 1h0m4 0h0m-5 1h0" stroke="#8a7a60" stroke-width="1.8" stroke-linecap="square"/>
<path d="M746 605h0m2 0h0m-34 1h0m17 0h0m9 0h0m-33 1h0m4 0h0m4 0h0m11 0h0m-8 1h0m16 0h0m2 0h0m3 0h0m17 0h0m-47 1h0m1 0h0m11 0h0m2 0h0m19 0h0m-19 1h0m1 0h0m11 0h0m23 0h0m-32 1h0m1 0h0m7 0h0m7 0h0m6 0h0m4 0h0m5 0h0m-47 1h0m40 0h0m1 0h0m-38 1h0m7 0h0m21 0h0m11 0h0m-42 1h0m36 0h0m-35 1h0m21 0h0m10 0h0m-37 1h0m-2 1h0m1 1h0m3 0h0m12 0h0m23 0h0m17 0h0m-47 1h0m38 0h0m-11 1h0m7 0h0m8 0h0m-45 1h0m8 0h0m19 0h0m3 0h0m-25 1h0m7 1h0m12 0h0m4 0h0m-7 1h0m-27 1h0m3 0h0m7 0h0m13 0h0m7 0h0m-28 1h0m12 0h0m5 0h0m25 0h0m12 0h0m-5 1h0m-50 1h0m18 0h0m4 0h0m16 1h0" stroke="#c07840" stroke-width="1.6" stroke-linecap="square"/>
<path d="M723 605h0m-18 1h0m4 0h0m11 0h0m14 0h0m3 0h0m-41 1h0m11 0h0m7 0h0m4 0h0m2 0h0m22 0h0m-39 1h0m39 0h0m15 0h0m-24 1h0m7 0h0m7 0h0m5 0h0m-56 1h0m19 0h0m18 0h0m3 0h0m-23 1h0m16 0h0m1 0h0m17 0h0m-47 1h0m32 0h0m7 0h0m0 1h0m-21 1h0m28 0h0m6 0h0m-43 1h0m7 0h0m17 0h0m16 0h0m-43 1h0m20 0h0m1 0h0m24 0h0m3 0h0m-45 1h0m4 0h0m-12 1h0m1 0h0m23 0h0m5 0h0m1 0h0m11 0h0m2 0h0m-26 1h0m-16 1h0m22 0h0m10 0h0m2 0h0m18 0h0m3 0h0m-55 2h0m2 0h0m16 0h0m1 0h0m17 0h0m7 0h0m5 0h0m-39 1h0m12 0h0m5 0h0m9 0h0m8 0h0m-36 1h0m21 0h0m2 0h0m10 0h0m-31 1h0m31 0h0m-42 1h0m11 0h0m5 0h0m39 0h0m-54 1h0m6 0h0m12 0h0m19 0h0m20 0h0m-35 1h0m8 0h0m24 0h0m-36 1h0m20 0h0m9 0h0m9 1h0" stroke="#2a2838" stroke-width="1.6" stroke-linecap="square"/>
<path d="M703 605h0m2 0h0m46 0h0m-44 1h0m41 0h0m6 0h0m-58 1h0m39 0h0m16 0h0m-21 1h0m16 0h0m-37 1h0m2 0h0m26 0h0m6 0h0m5 0h0m-41 1h0m6 0h0m3 0h0m3 0h0m2 0h0m11 0h0m6 0h0m20 1h0m-51 1h0m13 0h0m6 0h0m9 0h0m13 0h0m2 0h0m-17 1h0m17 0h0m-21 1h0m12 0h0m4 0h0m10 0h0m-29 1h0m-18 1h0m42 0h0m-52 1h0m11 0h0m11 0h0m3 0h0m7 0h0m9 0h0m1 0h0m17 0h0m-48 1h0m40 0h0m-50 1h0m26 1h0m8 0h0m3 0h0m2 0h0m17 0h0m-35 1h0m16 0h0m9 0h0m-1 1h0m3 0h0m-26 1h0m2 0h0m20 0h0m13 0h0m-52 1h0m11 0h0m38 0h0m-38 1h0m4 0h0m2 0h0m29 0h0m7 0h0m-51 1h0m6 0h0m19 0h0m4 1h0m1 0h0m-35 1h0m1 0h0m11 0h0m21 0h0m22 2h0" stroke="#8a5a38" stroke-width="1.6" stroke-linecap="square"/>
<path d="M762 605h0m-12 1h0m9 1h0m-13 4h0m14 1h0m-14 2h0m14 0h0m5 0h0m-14 1h0m-10 2h0m12 0h0m-4 2h0m10 0h0m1 5h0m-20 1h0m16 0h0m-15 1h0m14 1h0m2 0h0m-4 1h0m8 0h0m4 0h0m-21 1h0m11 0h0m3 0h0m6 0h0m-9 1h0m3 2h0m7 0h0m-25 1h0m9 1h0m12 0h0m-3 2h0m-11 2h0m5 1h0m4 0h0m1 0h0m6 2h0m-12 1h0m2 4h0m9 0h0m-11 1h0m-3 1h0m4 0h0m-2 3h0m5 0h0m6 2h0m1 0h0m-6 1h0m-15 1h0m7 0h0m1 0h0m-9 1h0m4 2h0m-3 2h0m4 0h0m21 0h0m-24 2h0m9 0h0m-11 1h0m8 1h0m1 0h0m-7 2h0m22 1h0m-22 1h0m14 0h0m9 0h0m-24 1h0m6 0h0m5 1h0m0 2h0m13 0h0m-3 2h0m-1 5h0m-21 1h0m8 1h0m8 0h0m0 2h0m-7 1h0m15 1h0m0 2h0m-24 2h0m5 2h0m4 1h0m7 0h0m-8 1h0m11 0h0m-1 1h0m-20 1h0m6 0h0m3 0h0m6 1h0" stroke="#2a3040" stroke-width="1.6" stroke-linecap="square"/>
<path d="M746 606h0m-6 2h0m25 0h0m-14 2h0m5 0h0m1 0h0m-11 1h0m1 1h0m2 0h0m-8 1h0m13 1h0m10 3h0m-8 1h0m7 0h0m-15 2h0m13 0h0m-20 1h0m7 0h0m-8 2h0m21 0h0m-20 1h0m15 0h0m-10 2h0m-3 1h0m-3 1h0m19 0h0m1 0h0m-7 1h0m-15 1h0m24 0h0m-6 4h0m1 0h0m4 0h0m-12 3h0m1 0h0m3 0h0m4 0h0m-10 1h0m18 1h0m-13 1h0m13 0h0m-23 1h0m1 1h0m0 1h0m8 0h0m13 0h0m1 0h0m-24 1h0m12 0h0m2 2h0m-12 1h0m4 0h0m2 0h0m12 0h0m-22 1h0m17 0h0m6 0h0m-6 1h0m-8 4h0m16 1h0m-17 2h0m4 0h0m12 2h0m-16 1h0m4 0h0m6 1h0m3 0h0m-7 4h0m-10 1h0m20 0h0m-19 1h0m4 0h0m-9 1h0m13 1h0m9 0h0m-8 1h0m-14 2h0m16 2h0m1 0h0m-7 2h0m2 0h0m8 0h0m-20 1h0m12 3h0m-5 2h0m14 1h0m-18 1h0m19 0h0m1 2h0m-4 2h0m-2 1h0m-10 2h0m4 0h0m4 0h0m9 0h0m-25 1h0m11 0h0m-5 2h0m2 1h0m2 0h0m5 1h0m2 0h0m9 0h0m-14 1h0m-6 1h0" stroke="#1a2030" stroke-width="1.6" stroke-linecap="square"/>
<path d="M755 606h0m7 0h0m-20 1h0m3 0h0m7 1h0m-9 2h0m4 1h0m4 4h0m-11 1h0m23 0h0m-7 3h0m4 0h0m-22 2h0m24 0h0m-3 1h0m-6 1h0m-14 1h0m2 2h0m18 0h0m4 0h0m-18 2h0m5 1h0m-12 1h0m5 0h0m6 0h0m16 0h0m-3 1h0m-19 6h0m17 0h0m-6 2h0m-15 2h0m5 0h0m-5 1h0m6 0h0m13 1h0m1 0h0m-19 1h0m7 1h0m9 1h0m5 1h0m-7 2h0m-1 2h0m-13 1h0m23 3h0m2 2h0m-8 2h0m0 1h0m-16 2h0m22 0h0m-8 1h0m5 0h0m3 0h0m-24 1h0m11 1h0m7 0h0m-12 1h0m0 1h0m2 0h0m4 0h0m-9 1h0m6 1h0m-9 2h0m4 1h0m22 1h0m-10 1h0m6 0h0m-23 3h0m19 1h0m5 0h0m-19 3h0m-1 1h0m3 0h0m9 0h0m2 0h0m-2 1h0m-6 1h0m11 0h0m-21 1h0m20 0h0m3 3h0m-2 3h0m3 0h0m-13 1h0m15 2h0m-9 2h0" stroke="#5a5a6a" stroke-width="1.6" stroke-linecap="square"/>
<path d="M748 606h0m18 0h0m-21 1h0m9 1h0m2 1h0m-18 2h0m19 0h0m0 1h0m1 0h0m-19 1h0m18 0h0m8 0h0m-26 1h0m2 6h0m14 1h0m-8 1h0m9 0h0m3 1h0m-17 2h0m-2 1h0m5 0h0m10 0h0m2 0h0m-11 1h0m9 0h0m6 0h0m1 0h0m-13 1h0m0 1h0m5 0h0m11 0h0m-21 2h0m18 0h0m-8 1h0m-7 1h0m13 0h0m-9 1h0m5 0h0m-1 1h0m5 0h0m-7 1h0m6 1h0m-15 3h0m11 1h0m5 0h0m4 0h0m-25 4h0m22 0h0m2 0h0m-19 1h0m7 0h0m-4 2h0m8 1h0m-9 1h0m-6 1h0m8 0h0m16 0h0m-18 1h0m-6 1h0m1 0h0m19 0h0m-21 5h0m19 2h0m-11 1h0m1 0h0m17 1h0m-15 1h0m-9 1h0m3 0h0m-5 4h0m12 0h0m-7 1h0m5 1h0m6 0h0m8 0h0m2 0h0m-16 1h0m1 0h0m11 0h0m-7 1h0m0 2h0m3 0h0m4 0h0m-3 3h0m-13 2h0m-1 1h0m0 1h0m15 0h0m6 0h0m-16 1h0m7 0h0m1 0h0m-15 1h0m20 0h0m-16 1h0m2 0h0m13 0h0m-8 3h0m11 1h0m-19 1h0m1 1h0m4 0h0m-5 2h0m15 0h0m-20 1h0m20 1h0m-20 1h0" stroke="#101828" stroke-width="1.6" stroke-linecap="square"/>
<path d="M744 608h0m4 0h0m1 0h0m-5 1h0m21 0h0m-4 1h0m-2 1h0m-15 1h0m13 0h0m2 0h0m3 0h0m1 0h0m-10 1h0m-8 1h0m16 0h0m-9 2h0m4 1h0m-17 2h0m18 0h0m5 0h0m-10 1h0m-13 3h0m1 0h0m-1 2h0m22 1h0m-11 1h0m3 0h0m10 0h0m2 0h0m-3 2h0m-23 3h0m10 1h0m10 0h0m3 0h0m-6 1h0m3 0h0m-5 1h0m7 0h0m-8 1h0m-14 1h0m9 2h0m16 0h0m-15 2h0m2 1h0m-11 3h0m15 0h0m-3 1h0m1 0h0m2 0h0m2 1h0m2 0h0m1 0h0m5 0h0m-14 1h0m4 0h0m-7 3h0m8 0h0m-8 4h0m4 0h0m-14 1h0m18 0h0m1 0h0m0 2h0m7 0h0m-24 1h0m13 0h0m-13 1h0m26 1h0m-27 1h0m9 2h0m12 1h0m1 1h0m-19 1h0m-1 1h0m20 0h0m-5 1h0m-2 4h0m-11 1h0m1 0h0m4 0h0m8 0h0m2 0h0m8 2h0m-3 1h0m-5 1h0m-3 1h0m-12 1h0m0 2h0m11 1h0m1 1h0m-13 1h0m2 5h0m12 0h0m-11 1h0m3 0h0m6 0h0m7 0h0m1 2h0m-17 3h0m11 1h0" stroke="#3a3848" stroke-width="1.6" stroke-linecap="square"/>
<path d="M723 622h0m-7 2h0m8 0h0m8 0h0m3 2h0m-29 1h0m10 2h0m15 4h0m-9 1h0m-13 2h0m17 1h0m-4 2h0m-15 1h0m32 1h0m-15 3h0m3 2h0m-13 2h0m4 2h0m-1 1h0m-1 2h0m6 0h0m3 0h0m5 1h0m5 0h0m-9 2h0m-3 1h0m1 1h0m5 2h0m1 6h0m-5 1h0m18 1h0m-5 7h0m-7 1h0m3 0h0m0 1h0m8 2h0m-5 1h0m-10 1h0m11 2h0m-14 3h0m14 0h0m-2 1h0m-11 2h0m8 0h0m-11 1h0m14 1h0m8 5h0" stroke="#2a3040" stroke-width="1.3" stroke-linecap="square"/>
<path d="M714 621h0m-5 1h0m7 0h0m-1 3h0m12 2h0m1 0h0m-11 2h0m-5 1h0m22 0h0m2 0h0m-26 1h0m21 3h0m-25 3h0m7 1h0m7 0h0m-2 1h0m14 0h0m-15 2h0m-5 1h0m14 1h0m13 5h0m-27 1h0m13 5h0m6 1h0m5 1h0m2 0h0m-20 5h0m-3 1h0m13 0h0m8 5h0m7 0h0m-11 1h0m5 1h0m2 1h0m3 0h0m-14 1h0m-3 3h0m16 3h0m-13 1h0m15 0h0m-8 1h0m-17 9h0m14 2h0m-3 1h0m6 2h0m-13 2h0m20 0h0m-22 1h0" stroke="#3a3848" stroke-width="1.3" stroke-linecap="square"/>
<path d="M719 620h0m4 2h0m-21 1h0m38 0h0m-12 1h0m-22 2h0m23 0h0m3 0h0m-26 4h0m18 2h0m2 1h0m-22 1h0m31 1h0m-17 4h0m-9 1h0m18 2h0m-5 3h0m-12 1h0m5 0h0m2 1h0m8 0h0m1 2h0m1 0h0m13 1h0m-30 2h0m25 0h0m-26 2h0m4 1h0m15 0h0m13 0h0m-22 1h0m-7 1h0m8 1h0m3 0h0m1 4h0m10 1h0m3 1h0m5 0h0m0 1h0m-27 3h0m23 0h0m1 1h0m-5 2h0m3 1h0m-22 2h0m6 2h0m3 0h0m13 4h0m-16 3h0m16 2h0m4 0h0m3 1h0m-21 2h0m5 0h0m15 4h0m-18 2h0" stroke="#8a7060" stroke-width="1.3" stroke-linecap="square"/>
<path d="M676 637h0m-2 2h0m2 0h0m-2 1h0m3 1h0m-3 2h0m2 0h0m0 1h0m1 0h0m-3 1h0m2 0h0m1 0h0m0 1h0m-1 1h0m1 1h0m-1 1h0m0 1h0m2 0h0m-1 1h0m0 1h0m1 0h0m1 0h0m-2 1h0m-1 1h0m1 1h0m1 0h0m-1 1h0m0 1h0m0 2h0m1 0h0m-1 1h0m3 1h0m-2 2h0m1 1h0m2 2h0m0 1h0m-2 1h0m1 2h0m-1 1h0m0 1h0m1 1h0m1 1h0m1 1h0m-2 1h0m2 1h0m-2 1h0m1 0h0m1 0h0m-2 1h0m1 0h0m1 0h0m-1 2h0m0 1h0m1 0h0m-1 1h0" stroke="#8a6040" stroke-width="1.6" stroke-linecap="square"/>
<path d="M651 659h0m9 1h0m-8 1h0m1 0h0m4 0h0m1 0h0m2 0h0m5 0h0m-17 1h0m3 0h0m2 0h0m6 0h0m2 0h0m3 0h0m1 0h0m-7 1h0m6 0h0m1 0h0m-1 1h0m2 0h0m-1 6h0m1 0h0m-2 1h0m1 0h0m1 1h0m-1 2h0m0 2h0m2 2h0m-1 2h0m1 3h0m-1 1h0m-2 1h0m2 0h0m-2 1h0m2 0h0m-1 1h0m1 0h0m-1 1h0m1 1h0m1 0h0m-2 1h0m0 1h0m0 3h0m1 0h0m-1 1h0m1 0h0m0 1h0" stroke="#8a7a68" stroke-width="1.4" stroke-linecap="square"/>
<path d="M659 661h0m4 0h0m2 0h0m-13 1h0m1 0h0m5 0h0m9 0h0m-15 1h0m1 0h0m1 0h0m8 0h0m2 1h0m1 0h0m0 1h0m0 1h0m0 2h0m1 1h0m0 1h0m-2 2h0m1 0h0m1 0h0m1 0h0m-3 1h0m1 1h0m-2 1h0m2 0h0m-1 1h0m3 0h0m-2 1h0m-1 1h0m1 1h0m1 2h0m0 1h0m0 1h0m-1 2h0m1 0h0m-2 1h0m1 0h0m1 0h0m0 2h0m-1 5h0m-1 1h0m2 0h0m1 0h0m-2 1h0m1 0h0m-1 2h0" stroke="#a09080" stroke-width="1.4" stroke-linecap="square"/>
<path d="M648 660h0m3 0h0m3 0h0m-2 1h0m3 0h0m2 0h0m-10 1h0m7 0h0m2 0h0m4 0h0m4 0h0m2 0h0m-15 1h0m11 0h0m3 1h0m2 0h0m-2 1h0m0 2h0m0 1h0m1 0h0m0 1h0m-1 1h0m0 1h0m1 1h0m-1 1h0m0 1h0m1 1h0m-1 2h0m1 2h0m-1 5h0m0 2h0m-1 1h0m1 1h0m1 0h0m1 0h0m-3 1h0m2 1h0m-1 1h0m0 2h0m2 4h0" stroke="#5a5048" stroke-width="1.4" stroke-linecap="square"/>
<path d="M649 665h0m-1 1h0m-1 2h0m1 0h0m1 1h0m-2 3h0m0 2h0m2 0h0m-1 2h0m-1 3h0m2 0h0m-1 1h0m0 1h0m0 2h0m1 0h0m1 0h0m-4 1h0m4 0h0m-3 1h0m1 0h0m-1 2h0m1 0h0m0 1h0m-1 1h0m-1 1h0m2 5h0m1 0h0m-1 1h0" stroke="#8a7a68" stroke-width="1.3" stroke-linecap="square"/>
<path d="M648 664h0m-1 2h0m2 0h0m-1 2h0m0 1h0m1 0h0m-1 1h0m0 2h0m0 1h0m1 1h0m-1 1h0m0 1h0m0 2h0m1 1h0m-1 1h0m-1 1h0m1 0h0m0 1h0m-1 2h0m2 3h0m-1 1h0m1 0h0m0 1h0m-2 1h0m0 1h0m1 0h0m-1 1h0m1 0h0m-1 1h0m1 0h0m0 1h0m0 1h0m-1 1h0m1 0h0m1 0h0" stroke="#5a5048" stroke-width="1.3" stroke-linecap="square"/>
<path d="M778 656h0m3 1h0m9 1h0m-2 1h0m9 0h0m-8 1h0m0 2h0m1 0h0m7 1h0m-17 23h0m-2 1h0m14 0h0m1 0h0m-9 4h0m4 1h0m4 0h0m3 1h0" stroke="#8a7a70" stroke-width="1.5" stroke-linecap="square"/>
<path d="M698 562h0m-34 1h0m108 0h0m-59 1h0m0 1h0m118 1h0m-63 1h0m80 2h0m-61 6h0m-54 2h0m128 1h0m-116 1h0m71 0h0m-157 1h0m85 0h0m105 1h0m-197 3h0m64 0h0m81 4h0m-85 2h0m-42 2h0m111 1h0m-29 4h0m57 0h0m-165 3h0m124 3h0m61 3h0m15 3h0m21 1h0m-148 1h0m105 0h0m-154 5h0m79 2h0m106 0h0m12 2h0m-220 2h0m188 2h0m-166 5h0m56 0h0m98 0h0m-48 1h0m-54 2h0m-52 7h0m-9 1h0m1 1h0m-8 4h0m26 2h0m196 3h0m-198 3h0m38 0h0m25 0h0m7 3h0m50 1h0m55 1h0m-81 8h0m15 3h0m-76 1h0m57 0h0m27 2h0m-87 2h0m64 1h0m67 0h0m-151 2h0m133 0h0m-162 2h0m170 0h0m-146 3h0m4 1h0m26 0h0m115 2h0m-12 1h0m55 3h0m8 1h0m-151 5h0m-65 1h0" stroke="#202830" stroke-width="1.2" stroke-linecap="square"/>
<path d="M693 562h0m166 0h0m-126 3h0m-83 1h0m105 0h0m-41 1h0m156 0h0m-145 6h0m-45 1h0m122 6h0m53 2h0m-2 2h0m-191 4h0m24 2h0m2 1h0m55 1h0m33 0h0m41 2h0m35 1h0m-162 3h0m95 0h0m-93 1h0m57 0h0m-32 2h0m140 4h0m1 2h0m-132 4h0m94 6h0m-52 3h0m78 0h0m-15 1h0m-76 1h0m77 1h0m-162 1h0m4 1h0m143 4h0m-173 1h0m57 0h0m55 0h0m3 0h0m-34 2h0m53 0h0m77 9h0m-130 2h0m138 3h0m-109 1h0m-24 1h0m134 3h0m-131 3h0m-88 3h0m197 0h0m30 0h0m-107 2h0m-102 1h0m54 0h0m56 0h0m-71 1h0m-60 2h0m189 0h0m-19 2h0m62 3h0m-27 1h0m-199 2h0m170 0h0m-36 9h0m-104 1h0m35 2h0m-32 1h0m-32 1h0m94 2h0m98 1h0m-186 1h0m202 3h0m-130 1h0m-87 1h0m195 1h0" stroke="#384048" stroke-width="1.2" stroke-linecap="square"/>
<path d="M821 562h0m-150 2h0m2 2h0m40 1h0m-68 1h0m108 0h0m-7 2h0m-44 1h0m1 0h0m110 2h0m41 2h0m-161 2h0m127 0h0m19 4h0m-168 1h0m116 0h0m69 3h0m-74 6h0m-132 2h0m191 0h0m-38 4h0m3 2h0m-27 2h0m-51 1h0m-41 5h0m58 0h0m9 1h0m103 0h0m-152 2h0m136 5h0m-72 4h0m-42 2h0m-1 2h0m9 0h0m66 3h0m-10 4h0m-90 1h0m32 2h0m-74 4h0m66 2h0m17 0h0m135 0h0m-6 2h0m-213 1h0m211 0h0m-222 1h0m68 1h0m37 0h0m-29 1h0m-40 1h0m96 4h0m-72 2h0m57 1h0m-81 4h0m9 3h0m124 1h0m-91 1h0m131 1h0m-123 2h0m22 0h0m-73 2h0m3 1h0m48 3h0m34 0h0m31 2h0m42 0h0m-141 3h0m180 0h0m-203 1h0m92 0h0m-46 1h0m88 1h0m26 2h0m-168 1h0m5 6h0m127 8h0" stroke="#2a2a3a" stroke-width="1.2" stroke-linecap="square"/>
<path d="M912 297h0m3 0h0m1 2h0m-6 7h0m2 1h0m-4 7h0m3 4h0m5 0h0m-6 7h0m-5 1h0m-4 8h0m0 4h0m-3 1h0m1 2h0m-2 1h0m3 2h0m-4 2h0m7 0h0m-19 3h0m12 1h0m-11 1h0m18 0h0m-17 2h0m0 1h0m6 1h0m9 0h0m-14 1h0m15 2h0m-4 3h0m-10 2h0m10 0h0m-11 3h0m3 0h0m-8 2h0m2 1h0m-4 4h0m5 1h0m-4 9h0m0 2h0m2 1h0m10 2h0m-13 2h0m7 0h0m3 0h0m-10 10h0m11 0h0m2 0h0m-14 1h0m-3 1h0m10 2h0m2 5h0m-10 1h0m0 4h0m7 1h0m2 1h0m4 6h0m-12 5h0m8 3h0m-1 3h0m4 2h0m8 2h0m-5 2h0m-8 1h0m4 2h0m-8 1h0m22 1h0m-3 1h0m6 2h0m-18 1h0m2 0h0m2 1h0m11 0h0m4 0h0m3 1h0m-20 1h0m18 1h0m-17 1h0m7 0h0m10 2h0m-14 1h0m8 1h0m7 0h0m8 1h0m11 2h0m-14 2h0m15 0h0m-8 1h0m3 0h0m10 2h0m-24 1h0m18 1h0m12 0h0m-9 2h0m5 0h0m-18 1h0m25 1h0m-4 1h0m21 0h0m-9 1h0m3 0h0m-1 1h0m-8 1h0m22 0h0m-14 2h0m22 0h0m2 0h0m-26 1h0m10 2h0m16 1h0" stroke="#b89c74" stroke-width="1.9" stroke-linecap="square"/>
<path d="M914 302h0m-1 2h0m-2 3h0m1 0h0m-5 8h0m7 1h0m-12 10h0m9 2h0m-4 1h0m-5 1h0m7 1h0m-13 3h0m1 1h0m10 0h0m1 0h0m-14 3h0m8 1h0m2 1h0m2 0h0m-13 2h0m0 2h0m-3 3h0m7 0h0m-8 9h0m1 0h0m-8 1h0m9 0h0m10 0h0m-13 1h0m15 1h0m-15 1h0m7 3h0m-15 2h0m15 1h0m-9 1h0m4 0h0m9 0h0m-9 1h0m9 0h0m-17 1h0m17 0h0m-17 3h0m5 0h0m7 0h0m-12 4h0m6 1h0m8 4h0m-13 6h0m2 1h0m6 3h0m-11 2h0m3 0h0m1 5h0m-5 1h0m11 3h0m2 3h0m-16 1h0m2 0h0m13 7h0m-5 1h0m-3 3h0m4 0h0m-5 3h0m-4 3h0m-1 1h0m9 0h0m1 0h0m6 3h0m-9 1h0m-7 1h0m5 0h0m11 5h0m3 6h0m0 1h0m6 0h0m-2 3h0m3 0h0m1 0h0m4 3h0m-3 2h0m-10 1h0m7 0h0m-1 2h0m4 0h0m3 1h0m-10 1h0m8 0h0m3 0h0m1 0h0m-7 1h0m10 0h0m2 2h0m-7 2h0m19 0h0m-25 1h0m0 1h0m15 0h0m-5 1h0m11 1h0m-7 1h0m16 0h0m-5 3h0m2 1h0m4 0h0m7 0h0m3 0h0m-26 1h0m21 0h0m-18 1h0m18 1h0m-6 1h0m4 0h0m-14 1h0m45 1h0m-26 2h0m-10 1h0m1 0h0m22 1h0m13 0h0" stroke="#c0a880" stroke-width="1.9" stroke-linecap="square"/>
<path d="M912 298h0m1 0h0m1 7h0m-2 2h0m5 6h0m1 0h0m-11 5h0m3 1h0m0 2h0m-6 4h0m8 2h0m-11 1h0m7 1h0m3 0h0m1 0h0m-9 3h0m-8 3h0m2 0h0m9 1h0m-14 6h0m7 3h0m-8 1h0m3 0h0m7 0h0m-7 1h0m-7 1h0m-1 1h0m8 0h0m9 1h0m-20 3h0m13 0h0m3 0h0m-10 3h0m1 1h0m-9 2h0m20 1h0m-16 1h0m10 0h0m-8 1h0m6 2h0m-8 3h0m6 1h0m1 3h0m5 0h0m0 3h0m-18 1h0m2 1h0m5 0h0m11 0h0m-8 1h0m8 1h0m-18 2h0m4 2h0m-4 1h0m2 2h0m12 0h0m-13 1h0m2 0h0m6 1h0m4 0h0m-7 6h0m9 0h0m-12 3h0m8 0h0m-10 4h0m6 0h0m7 7h0m-13 3h0m3 1h0m-2 3h0m10 3h0m-5 1h0m-3 1h0m1 5h0m-6 1h0m10 0h0m4 1h0m-11 2h0m2 2h0m10 2h0m1 0h0m-3 2h0m-5 3h0m12 0h0m-2 1h0m3 0h0m-20 1h0m8 1h0m9 0h0m-14 1h0m14 2h0m6 1h0m-16 1h0m19 0h0m-15 1h0m7 0h0m-6 2h0m-6 1h0m20 0h0m4 1h0m-14 2h0m3 2h0m17 1h0m-20 3h0m24 0h0m-23 1h0m9 3h0m13 1h0m3 1h0m-12 1h0m7 0h0m6 0h0m-10 2h0m15 0h0m6 0h0m1 0h0m-13 1h0m7 0h0m-8 2h0m4 0h0m7 0h0m2 0h0m11 0h0m-17 3h0m6 1h0m13 0h0m22 2h0m8 0h0m-45 1h0m15 0h0m16 0h0m13 0h0m-21 1h0m9 0h0m2 0h0m6 0h0m7 0h0m2 0h0m-27 1h0m7 0h0m12 1h0m-3 1h0m12 0h0" stroke="#d0b890" stroke-width="1.9" stroke-linecap="square"/>
<path d="M913 304h0m2 0h0m2 2h0m0 1h0m1 2h0m-5 1h0m0 3h0m-8 10h0m4 0h0m-1 5h0m-8 2h0m-3 3h0m1 0h0m10 0h0m-9 1h0m2 0h0m4 0h0m-8 3h0m7 0h0m3 3h0m-17 2h0m1 0h0m5 2h0m-3 3h0m5 2h0m-10 1h0m-5 2h0m2 2h0m2 2h0m-5 6h0m13 0h0m-8 1h0m3 4h0m6 0h0m-8 2h0m7 1h0m4 0h0m-20 2h0m14 0h0m1 0h0m-14 1h0m7 0h0m-6 1h0m12 2h0m0 1h0m-13 6h0m10 1h0m2 0h0m-10 4h0m10 1h0m1 0h0m-4 3h0m3 1h0m0 3h0m-12 4h0m1 0h0m7 3h0m-12 2h0m7 0h0m10 1h0m-13 1h0m1 0h0m10 1h0m-15 1h0m2 4h0m10 1h0m-8 1h0m0 1h0m11 4h0m0 4h0m-12 4h0m0 1h0m2 1h0m10 1h0m2 4h0m-16 1h0m16 1h0m3 3h0m-15 1h0m1 0h0m13 2h0m1 0h0m10 2h0m-5 1h0m-15 3h0m21 1h0m2 0h0m-15 1h0m1 1h0m2 2h0m2 0h0m17 0h0m-13 1h0m11 2h0m-13 2h0m22 0h0m-2 3h0m10 1h0m-13 1h0m18 0h0m-18 1h0m-10 1h0m15 0h0m2 0h0m-13 2h0m25 3h0m0 1h0m18 0h0m-33 1h0m1 0h0m4 0h0m26 0h0m-19 1h0m20 0h0m-20 1h0m8 0h0m9 0h0m-11 1h0m4 0h0m5 0h0m-5 1h0m36 1h0m-26 1h0m18 0h0m8 1h0" stroke="#a89070" stroke-width="1.9" stroke-linecap="square"/>
<path d="M913 297h0m0 2h0m2 1h0m2 3h0m-5 9h0m0 2h0m-1 4h0m-3 2h0m-10 10h0m1 2h0m11 2h0m-3 1h0m-4 2h0m-11 3h0m7 0h0m6 1h0m-5 1h0m-8 1h0m13 0h0m-16 1h0m-1 1h0m8 0h0m7 0h0m-1 2h0m-12 4h0m-2 2h0m14 0h0m-8 3h0m9 1h0m-16 1h0m-6 1h0m10 3h0m4 1h0m1 0h0m-13 1h0m11 0h0m-1 1h0m-13 3h0m2 1h0m-1 1h0m12 0h0m-2 2h0m4 1h0m4 0h0m-16 1h0m4 0h0m8 0h0m-6 2h0m7 6h0m-6 1h0m-12 1h0m15 6h0m-1 1h0m-13 1h0m-1 2h0m0 5h0m6 4h0m-7 1h0m9 5h0m-9 2h0m11 5h0m5 0h0m-5 3h0m-10 2h0m0 3h0m14 5h0m-2 3h0m-4 1h0m1 0h0m1 0h0m6 0h0m4 3h0m-13 2h0m-5 1h0m4 0h0m1 0h0m0 5h0m2 0h0m1 0h0m-6 1h0m11 1h0m10 3h0m9 4h0m1 1h0m-8 2h0m-10 1h0m19 1h0m-8 1h0m6 0h0m2 1h0m-15 1h0m12 0h0m-2 2h0m-2 1h0m1 2h0m2 0h0m7 0h0m12 1h0m-7 1h0m-4 3h0m20 0h0m3 0h0m-1 1h0m-14 1h0m1 0h0m29 1h0m8 0h0m5 0h0m-23 1h0m5 0h0m-17 1h0m2 0h0m22 3h0m5 0h0m4 0h0m2 0h0m5 0h0" stroke="#d8c0a0" stroke-width="1.9" stroke-linecap="square"/>
<path d="M915 294h0m-2 2h0m3 3h0m-5 2h0m7 4h0m-7 2h0m5 2h0m-4 4h0m3 4h0m-5 8h0m-9 2h0m4 2h0m1 1h0m-4 1h0m4 1h0m-8 1h0m2 2h0m8 0h0m-11 1h0m7 0h0m-11 2h0m-2 1h0m0 2h0m10 2h0m-1 1h0m2 0h0m-13 2h0m17 0h0m-19 3h0m9 0h0m-4 2h0m5 2h0m1 1h0m-12 2h0m5 0h0m12 0h0m-15 2h0m13 0h0m-11 3h0m2 0h0m-5 1h0m2 0h0m-7 1h0m10 4h0m-9 1h0m3 6h0m-5 1h0m3 0h0m5 0h0m-6 1h0m-2 3h0m1 2h0m-2 2h0m-2 3h0m18 0h0m-4 1h0m-4 3h0m2 1h0m-7 1h0m1 0h0m9 0h0m-5 1h0m5 0h0m-3 1h0m-12 2h0m-1 2h0m3 0h0m7 0h0m2 1h0m-8 2h0m1 0h0m8 0h0m3 1h0m-5 3h0m2 1h0m-3 4h0m0 5h0m2 1h0m-10 2h0m7 0h0m-7 1h0m13 0h0m-3 1h0m-10 2h0m2 0h0m-3 1h0m14 4h0m-13 2h0m3 0h0m8 1h0m1 4h0m-3 1h0m4 3h0m1 0h0m8 1h0m-13 1h0m7 1h0m5 0h0m-21 1h0m1 1h0m17 1h0m9 3h0m-5 1h0m5 0h0m-6 5h0m19 3h0m2 0h0m-23 4h0m7 0h0m1 0h0m20 1h0m1 2h0m-10 1h0m16 0h0m-20 1h0m17 1h0m-17 2h0m3 1h0m11 0h0m15 0h0m12 2h0m-31 1h0m5 0h0m12 1h0m25 1h0m-31 1h0m-5 1h0m3 0h0m21 0h0m4 0h0m10 0h0m2 0h0m12 0h0m-26 1h0m21 0h0m-25 1h0m16 0h0m-8 1h0m7 1h0m4 2h0" stroke="#a08060" stroke-width="1.9" stroke-linecap="square"/>
<path d="M914 301h0m-4 5h0m1 1h0m1 13h0m-9 4h0m5 0h0m1 0h0m-11 12h0m2 5h0m3 0h0m-1 2h0m2 1h0m2 3h0m-11 1h0m-1 2h0m-1 2h0m3 0h0m2 1h0m-17 1h0m0 1h0m12 0h0m2 1h0m-8 2h0m14 2h0m-8 2h0m-13 2h0m6 0h0m1 0h0m12 0h0m-19 2h0m1 1h0m2 5h0m5 0h0m-9 1h0m7 4h0m9 2h0m1 0h0m-18 3h0m14 0h0m3 1h0m-17 2h0m2 3h0m10 0h0m-4 2h0m-2 2h0m-2 3h0m-3 1h0m12 0h0m-3 4h0m-12 3h0m11 0h0m5 6h0m-15 1h0m10 1h0m4 1h0m-14 1h0m8 6h0m-8 4h0m13 0h0m0 1h0m-9 3h0m-1 2h0m5 0h0m3 0h0m-11 2h0m10 0h0m-3 2h0m3 0h0m-5 2h0m8 3h0m2 0h0m3 0h0m-8 1h0m3 4h0m1 2h0m1 0h0m10 3h0m6 0h0m1 0h0m-8 2h0m6 1h0m3 0h0m-3 4h0m15 7h0m3 5h0m18 0h0m1 0h0m-15 1h0m-9 1h0m19 0h0m4 1h0m4 1h0m-18 1h0m25 3h0m21 2h0m-9 1h0m9 0h0m2 1h0m1 0h0m2 1h0m-3 1h0m0 1h0" stroke="#6a5040" stroke-width="1.9" stroke-linecap="square"/>
<path d="M914 303h0m-4 1h0m4 3h0m-9 14h0m-2 4h0m9 0h0m-9 2h0m-10 9h0m7 1h0m1 0h0m-1 4h0m5 0h0m-12 1h0m-4 5h0m2 3h0m14 0h0m-19 1h0m3 0h0m14 0h0m1 1h0m-21 1h0m11 4h0m-3 3h0m-10 2h0m0 2h0m17 1h0m-15 2h0m16 3h0m-16 4h0m6 1h0m9 0h0m-12 5h0m3 0h0m4 0h0m-3 1h0m3 0h0m1 1h0m-12 2h0m-1 2h0m3 3h0m-1 2h0m-4 1h0m11 0h0m-5 5h0m-7 3h0m2 1h0m11 0h0m-2 1h0m-9 2h0m6 0h0m-2 3h0m-8 2h0m14 5h0m-6 2h0m8 2h0m-15 2h0m1 1h0m6 1h0m-5 1h0m5 0h0m2 1h0m4 0h0m-2 1h0m-10 3h0m12 2h0m-6 1h0m8 2h0m7 4h0m0 1h0m-12 2h0m4 0h0m2 2h0m5 0h0m3 1h0m4 0h0m-23 1h0m21 0h0m-15 1h0m16 1h0m-1 2h0m7 1h0m-18 2h0m2 0h0m8 3h0m-9 1h0m8 0h0m-7 1h0m12 0h0m-3 1h0m7 0h0m12 0h0m-4 3h0m9 0h0m6 3h0m-19 1h0m9 0h0m-1 1h0m13 0h0m0 1h0m-19 2h0m6 2h0m1 0h0m21 0h0m-5 1h0m7 0h0m-8 1h0m6 2h0m25 0h0m-35 1h0m16 0h0m2 0h0m-20 1h0m7 0h0m15 0h0m4 0h0m-11 1h0m28 0h0m-39 1h0m16 0h0m19 0h0m-7 1h0m6 0h0m-2 1h0m5 1h0m3 1h0" stroke="#8a6a50" stroke-width="1.9" stroke-linecap="square"/>
<path d="M914 293h0m0 5h0m-3 4h0m0 10h0m-1 8h0m2 0h0m-6 2h0m6 3h0m-3 2h0m-8 3h0m2 2h0m-6 2h0m1 1h0m10 2h0m-14 1h0m3 3h0m-2 2h0m-4 1h0m1 1h0m1 0h0m6 0h0m6 0h0m-15 1h0m-5 6h0m-1 1h0m1 0h0m19 0h0m-14 2h0m7 0h0m-3 4h0m-11 3h0m17 2h0m-8 1h0m7 0h0m-16 1h0m6 3h0m-9 1h0m8 1h0m-3 1h0m13 1h0m-5 2h0m5 1h0m-1 1h0m-15 3h0m13 1h0m1 0h0m-1 1h0m-8 1h0m6 3h0m-14 1h0m6 0h0m10 0h0m-9 3h0m5 2h0m-13 3h0m8 3h0m3 0h0m0 3h0m4 0h0m-13 1h0m2 7h0m-1 1h0m10 2h0m-12 5h0m14 0h0m-13 1h0m2 0h0m0 1h0m1 0h0m-2 1h0m-4 2h0m11 0h0m4 6h0m-6 3h0m-5 1h0m1 5h0m1 0h0m7 2h0m6 0h0m-15 2h0m3 0h0m-4 1h0m23 0h0m-11 3h0m7 0h0m-14 1h0m7 1h0m8 2h0m0 2h0m-11 1h0m10 0h0m13 0h0m2 1h0m-21 3h0m23 1h0m-20 1h0m11 1h0m1 0h0m13 0h0m-22 2h0m17 0h0m-1 3h0m16 0h0m-22 1h0m13 3h0m2 1h0m2 0h0m11 0h0m-16 1h0m18 1h0m4 0h0m-1 1h0m2 1h0m-12 2h0m43 0h0m-23 1h0m25 0h0m-35 1h0m26 0h0m5 1h0m-32 1h0m35 1h0" stroke="#8a7458" stroke-width="1.9" stroke-linecap="square"/>
<path d="M910 305h0m2 0h0m1 4h0m5 0h0m-8 6h0m1 0h0m4 2h0m-8 2h0m7 2h0m0 1h0m-4 2h0m-10 16h0m-7 1h0m1 0h0m14 0h0m-5 3h0m-5 1h0m3 0h0m2 1h0m1 1h0m-12 2h0m3 0h0m-3 7h0m7 2h0m-10 1h0m1 1h0m3 3h0m9 0h0m-7 4h0m-13 1h0m12 0h0m0 1h0m-8 2h0m10 1h0m-3 4h0m-10 1h0m-3 1h0m-2 1h0m12 3h0m-12 1h0m14 0h0m-12 2h0m3 0h0m3 0h0m2 0h0m-6 2h0m8 0h0m-4 2h0m-4 4h0m0 6h0m4 0h0m-8 1h0m13 1h0m0 2h0m-5 4h0m1 0h0m-4 1h0m4 0h0m-11 1h0m3 0h0m14 0h0m-8 1h0m-7 2h0m14 0h0m-10 1h0m8 1h0m-5 1h0m2 0h0m6 0h0m-6 2h0m-6 2h0m7 0h0m-10 1h0m9 2h0m3 1h0m-10 1h0m3 0h0m5 0h0m-3 3h0m7 1h0m-4 3h0m4 2h0m-10 1h0m5 0h0m-6 1h0m7 0h0m-1 2h0m6 1h0m-8 1h0m5 0h0m2 1h0m2 0h0m0 1h0m8 0h0m-16 4h0m20 0h0m-13 1h0m8 0h0m1 0h0m-12 1h0m9 0h0m-3 2h0m10 0h0m-1 2h0m-2 1h0m-8 2h0m15 0h0m-17 2h0m10 1h0m-4 2h0m15 1h0m-3 1h0m9 0h0m-8 1h0m-10 1h0m22 0h0m2 0h0m1 0h0m-3 1h0m-9 4h0m20 1h0m-9 1h0m6 1h0m19 0h0m-17 1h0m24 0h0m-7 3h0m5 0h0m10 0h0m-19 1h0m-7 1h0m9 0h0m16 0h0m-13 1h0m3 1h0m4 0h0m20 0h0m2 0h0m-20 1h0m11 0h0m10 2h0" stroke="#e0d0b0" stroke-width="1.9" stroke-linecap="square"/>
<path d="M915 294h0m2 12h0m-3 2h0m-1 4h0m-5 1h0m2 7h0m3 3h0m-4 2h0m-10 3h0m3 0h0m-4 2h0m1 8h0m-2 1h0m-3 1h0m11 0h0m-12 2h0m5 4h0m3 1h0m-12 1h0m6 0h0m5 1h0m0 1h0m-9 1h0m-10 2h0m5 0h0m5 2h0m8 1h0m0 2h0m-8 1h0m3 2h0m5 0h0m-16 1h0m3 0h0m13 6h0m-12 1h0m2 0h0m-9 5h0m17 0h0m1 1h0m-6 1h0m-12 5h0m-1 1h0m7 1h0m-7 1h0m3 0h0m5 0h0m7 1h0m-1 6h0m-10 4h0m7 2h0m-11 1h0m5 0h0m9 3h0m-16 2h0m12 3h0m-11 2h0m11 4h0m-1 5h0m-1 1h0m-4 1h0m6 0h0m1 0h0m-4 4h0m6 0h0m-10 1h0m3 0h0m-1 4h0m-6 2h0m13 0h0m-5 4h0m-7 1h0m13 1h0m-14 1h0m-1 1h0m7 0h0m1 0h0m15 0h0m-8 3h0m3 2h0m-6 1h0m-7 1h0m4 1h0m14 1h0m8 1h0m-11 3h0m8 0h0m4 3h0m0 1h0m-1 3h0m1 1h0m3 0h0m8 1h0m-13 1h0m5 4h0m20 2h0m-16 1h0m27 0h0m3 0h0m-3 2h0m-14 2h0m26 1h0m5 0h0m-10 1h0m-11 1h0m18 0h0m18 0h0m-16 1h0m4 0h0m-8 1h0m7 1h0m3 0h0m2 3h0" stroke="#b89878" stroke-width="1.9" stroke-linecap="square"/>
<path d="M915 303h0m-4 2h0m4 2h0m-5 8h0m-2 3h0m3 0h0m-5 1h0m3 0h0m-5 9h0m-1 1h0m4 10h0m-9 1h0m-9 5h0m1 0h0m-5 6h0m-3 3h0m8 2h0m3 0h0m10 1h0m-10 1h0m5 4h0m-4 1h0m-15 1h0m14 2h0m-5 1h0m-4 4h0m15 1h0m-21 2h0m1 1h0m3 3h0m5 1h0m2 0h0m5 4h0m-1 2h0m-3 3h0m-4 1h0m-3 3h0m5 2h0m1 0h0m-5 4h0m5 2h0m-4 1h0m5 0h0m-2 3h0m-3 2h0m-3 3h0m-3 1h0m11 1h0m-4 9h0m-8 1h0m2 0h0m-2 3h0m9 2h0m5 0h0m-1 4h0m-5 1h0m4 1h0m-8 2h0m8 2h0m-3 2h0m12 2h0m-18 4h0m18 1h0m-14 1h0m15 2h0m-2 1h0m2 1h0m-11 1h0m14 0h0m9 0h0m-12 2h0m7 1h0m-9 2h0m2 0h0m18 0h0m-20 2h0m-2 1h0m5 0h0m19 0h0m1 0h0m-23 1h0m14 0h0m9 0h0m-10 1h0m-12 1h0m11 0h0m14 2h0m-14 1h0m15 0h0m-17 1h0m2 0h0m3 0h0m10 0h0m-3 2h0m11 0h0m7 0h0m-18 1h0m8 0h0m7 0h0m13 1h0m-20 1h0m23 0h0m-8 1h0m-13 1h0m10 1h0m15 0h0m2 0h0m-30 1h0m6 2h0m17 0h0m8 0h0m14 0h0m1 0h0m-27 1h0m-4 1h0m37 0h0m-2 1h0m4 1h0" stroke="#c8b090" stroke-width="1.9" stroke-linecap="square"/>
<path d="M996 288h0m1 0h0m4 1h0m4 1h0m6 1h0m1 1h0m2 1h0m5 1h0m4 1h0m2 1h0m2 2h0m1 0h0m6 1h0m2 1h0m4 1h0m1 1h0m3 1h0m-75 1h0m78 1h0m11 6h0m1 0h0m-101 3h0m106 0h0m3 1h0m2 0h0m3 2h0m-118 1h0m119 0h0m6 3h0m-129 1h0m131 0h0m-107 1h0m110 1h0m-95 1h0m97 0h0m2 0h0m-98 1h0m-41 1h0m27 0h0m43 1h0m71 0h0m2 0h0m-46 1h0m-98 1h0m74 1h0m72 0h0m1 0h0m-147 1h0m46 0h0m102 0h0m-48 1h0m49 0h0m-49 1h0m1 0h0m50 0h0m-152 1h0m48 0h0m0 1h0m106 0h0m-105 1h0m105 0h0m-115 1h0m43 0h0m-43 1h0m-37 1h0m39 0h0m117 0h0m-155 1h0m40 0h0m12 0h0m29 0h0m75 0h0m-104 1h0m29 0h0m1 0h0m76 0h0m-104 1h0m29 0h0m75 0h0m-155 1h0m81 0h0m76 0h0m-154 1h0m1 1h0m79 0h0m76 0h0m-153 1h0m38 0h0m13 0h0m103 0h0m1 0h0m1 1h0m-151 1h0m49 0h0m1 0h0m101 0h0m-152 1h0m38 0h0m13 0h0m-46 1h0m35 0h0m113 0h0m-148 1h0m1 0h0m71 0h0m-63 1h0m1 1h0m1 0h0m2 1h0m79 0h0m0 1h0m-75 1h0m22 0h0m13 0h0m-32 2h0m34 0h0m98 0h0m2 0h0m-111 1h0m1 0h0m34 0h0m-25 1h0m43 1h0m1 0h0m58 0h0m-100 1h0m100 0h0m-130 1h0m23 0h0m0 1h0m1 1h0m54 0h0m1 0h0m-21 1h0m1 0h0m74 0h0m-108 1h0m-18 1h0m77 0h0m2 0h0m2 1h0m-61 1h0m36 1h0m28 0h0m-28 1h0m1 1h0m74 0h0m-107 1h0m108 0h0m-74 1h0m74 0h0m-129 1h0m22 0h0m33 0h0m-54 1h0m20 0h0m8 0h0m101 0h0m-100 1h0m32 1h0m1 0h0m-61 2h0m64 0h0m67 0h0m-106 2h0m46 0h0m1 0h0m58 0h0m-105 1h0m8 0h0m41 0h0m-49 1h0m8 0h0m1 0h0m42 0h0m-51 1h0m55 0h0m-75 2h0m32 0h0m51 0h0m-83 1h0m33 0h0m-8 1h0m104 0h0m-38 1h0m2 0h0m-53 1h0m1 0h0m89 0h0m-128 1h0m1 1h0m36 1h0m13 1h0m8 2h0m2 0h0m-57 1h0m43 0h0m15 0h0m-56 1h0m42 0h0m8 0h0m10 0h0m67 0h0m-83 1h0m1 0h0m8 0h0m9 0h0m3 0h0m-64 1h0m2 0h0m44 0h0m6 0h0m3 0h0m9 0h0m4 0h0m-62 1h0m52 0h0m8 0h0m4 0h0m57 0h0m-120 1h0m65 0h0m-11 1h0m1 0h0m67 1h0m-116 1h0m53 0h0m1 0h0m62 0h0m2 0h0m-113 1h0m2 0h0m51 0h0m-51 1h0m39 0h0m14 0h0m59 0h0m-57 1h0m1 0h0m-12 1h0m-31 2h0m36 0h0m1 0h0m1 0h0m-35 1h0m35 0h0m14 0h0m-46 1h0m11 0h0m10 0h0m77 0h0m-147 1h0m61 0h0m4 0h0m18 0h0m3 0h0m11 0h0m50 0h0m-47 2h0m-100 1h0m67 0h0m25 1h0m11 0h0m-105 1h0m71 0h0m26 0h0m1 0h0m9 0h0m47 0h0m-155 1h0m66 0h0m1 0h0m5 0h0m37 0h0m-108 1h0m73 0h0m83 0h0m-156 1h0m74 0h0m1 0h0m81 0h0m-50 1h0m1 0h0m-35 1h0m36 0h0m-36 1h0m1 0h0m1 0h0m5 0h0m34 0h0m-114 1h0m50 0h0m30 0h0m2 0h0m37 0h0m-68 1h0m2 0h0m65 1h0m-32 1h0m36 0h0m2 0h0m2 0h0m33 0h0m-78 1h0m5 0h0m1 0h0m38 0h0m33 0h0m1 0h0m-75 1h0m4 0h0m-3 1h0m-22 1h0m24 0h0m-159 2h0m136 0h0m24 0h0m1 0h0m3 0h0m1 0h0m-26 1h0m24 0h0m3 0h0m66 0h0m-108 1h0m13 0h0m31 0h0m64 0h0m-229 1h0m113 0h0m9 0h0m-67 1h0m112 0h0m62 0h0m-175 1h0m63 0h0m8 0h0m-72 1h0m74 0h0m103 0h0m-102 1h0m1 0h0m13 0h0m30 0h0m-28 1h0m-137 1h0m2 1h0m114 0h0m10 0h0m43 0h0m54 0h0m-81 1h0m2 0h0m22 0h0m4 0h0m53 0h0m-187 1h0m76 0h0m36 0h0m-35 1h0m7 0h0m11 0h0m1 0h0m13 0h0m2 0h0m1 0h0m-136 1h0m1 0h0m11 0h0m10 0h0m97 0h0m18 0h0m72 0h0m-189 1h0m93 0h0m8 0h0m1 0h0m41 0h0m-57 1h0m8 0h0m11 0h0m13 0h0m20 0h0m6 0h0m44 0h0m-70 1h0m2 0h0m26 0h0m42 0h0m-97 1h0m49 0h0m-32 1h0m12 0h0m28 0h0m-91 1h0m2 1h0m68 0h0m17 0h0m-83 1h0m53 0h0m38 0h0m-92 1h0m38 0h0m15 0h0m72 0h0m1 0h0m-121 2h0m68 1h0m15 0h0m-30 1h0m-47 1h0m1 0h0m47 0h0m17 0h0m14 0h0m34 0h0m-63 2h0m1 0h0m-45 1h0m33 0h0m13 0h0m-44 1h0m1 0h0m65 0h0m9 0h0m27 0h0m-70 1h0m1 0h0m34 0h0m10 1h0m-72 1h0m59 0h0m1 0h0m-59 1h0m29 0h0m1 0h0m15 1h0m29 0h0m1 0h0m-70 1h0m1 1h0m57 0h0m-15 1h0m15 0h0m-54 1h0m1 0h0m24 0h0m61 1h0m-82 1h0m69 0h0m-9 2h0m20 0h0m-77 1h0m58 0h0m19 2h0m-16 1h0m1 0h0m-57 1h0m71 0h0m-48 1h0m48 0h0m-70 1h0m22 0h0m17 0h0m31 0h0m-31 1h0m30 0h0m-44 1h0m15 0h0m30 0h0m0 1h0m-65 1h0m23 1h0m-21 1h0m61 0h0m-60 1h0m1 0h0m22 1h0m36 0h0m-57 1h0m57 0h0m-55 1h0m55 0h0m-55 1h0m21 0h0m1 0h0m2 2h0m24 0h0m-23 1h0m23 0h0m6 1h0m-49 1h0m1 0h0m41 0h0m-41 1h0m47 0h0m6 2h0m-29 2h0m15 0h0m0 1h0m7 1h0m-48 2h0m40 0h0m16 0h0m-56 1h0m46 4h0m-9 2h0m-1 1h0m11 0h0m-11 1h0m25 4h0m-71 1h0m38 0h0m22 0h0m12 0h0m-71 1h0m71 0h0m-74 1h0m41 0h0m20 0h0m-33 2h0m-30 1h0m-3 1h0m33 0h0m16 1h0m-51 1h0m71 0h0m-72 1h0m58 0h0m-13 1h0m9 0h0m-13 1h0m14 0h0m-14 1h0m22 0h0m-68 1h0m49 0h0m12 0h0m-14 1h0m1 0h0m4 0h0m1 0h0m-1 1h0m16 0h0m-6 1h0m6 0h0m-18 1h0m18 0h0m2 0h0m0 1h0m-29 1h0m9 0h0m2 0h0m12 0h0m17 0h0m-11 1h0m-28 1h0m13 1h0m1 0h0m0 2h0m2 1h0m18 0h0m-17 1h0m15 0h0m-28 2h0m31 1h0m2 0h0m-31 1h0m12 0h0m19 0h0m-30 1h0m13 0h0m-13 1h0m13 0h0m19 0h0m7 0h0m0 1h0m1 0h0m-38 1h0m12 0h0m11 2h0m1 0h0m7 0h0m-18 1h0m3 0h0m9 0h0m7 0h0m-7 1h0m7 0h0m-17 3h0m6 0h0m7 1h0m12 0h0m-19 1h0m2 0h0m18 0h0m-19 1h0m19 0h0m1 0h0m-37 1h0m32 0h0m1 0h0m-33 1h0m1 1h0m38 0h0m1 0h0m-5 1h0m5 0h0m-5 1h0m1 1h0m4 0h0m-4 1h0m-20 1h0m21 1h0m-20 1h0m8 1h0m15 1h0m-34 1h0m2 2h0m12 0h0m25 1h0m-24 1h0m7 0h0m13 0h0m-19 1h0m0 1h0m21 0h0m-21 1h0m7 0h0m-6 1h0m1 0h0m7 1h0m-7 1h0m25 0h0m-17 1h0m1 1h0m13 0h0m-20 1h0m21 0h0m-20 1h0m1 2h0m20 1h0m-19 1h0m20 1h0m-18 2h0m-17 1h0m1 0h0m16 0h0m9 1h0m1 1h0m9 0h0m-18 1h0m22 0h0m-23 1h0m1 0h0m2 0h0m16 0h0m-16 2h0m17 0h0m-5 1h0m6 0h0m-19 1h0m19 0h0m-5 1h0m8 0h0m-37 1h0m18 0h0m-17 1h0m1 0h0m17 0h0m12 1h0m-29 2h0m30 0h0m-30 1h0m16 0h0m1 1h0m14 0h0m5 0h0m-18 2h0m16 2h0m-16 1h0m17 0h0m-32 1h0m32 0h0m3 1h0m-2 2h0m-14 1h0m13 0h0m-31 1h0m0 1h0m0 1h0m18 1h0m1 1h0m-3 1h0m16 0h0m5 0h0m-33 2h0m15 0h0m14 0h0m-29 1h0m14 1h0m16 1h0m-1 1h0m-28 1h0m1 0h0m11 0h0m21 1h0m-18 2h0m-1 2h0m-17 2h0m20 0h0m18 0h0m-32 1h0m0 1h0m1 0h0m26 0h0m-32 2h0m6 0h0m11 0h0m16 0h0m0 2h0m-15 1h0m0 1h0m0 1h0m2 0h0m-19 1h0m38 0h0m-5 1h0m-33 1h0m38 0h0m-37 1h0m-1 1h0m7 0h0m11 0h0m1 0h0m1 0h0m-20 1h0m18 0h0m2 0h0m14 1h0m-34 1h0m39 0h0m-19 3h0m-19 1h0m19 0h0m21 3h0m-30 4h0m26 1h0m-34 2h0m35 0h0m0 2h0m1 0h0m4 3h0m-4 2h0m1 1h0" stroke="#e0c8a8" stroke-width="1.0" stroke-linecap="square"/>
<path d="M996 287h0m14 4h0m3 3h0m3 0h0m6 2h0m9 2h0m3 1h0m2 2h0m2 0h0m1 0h0m1 0h0m4 3h0m1 0h0m4 2h0m1 1h0m3 0h0m-2 1h0m2 0h0m-91 2h0m97 1h0m2 1h0m1 0h0m3 2h0m2 1h0m-112 1h0m117 2h0m2 0h0m1 1h0m3 1h0m1 1h0m1 0h0m-107 1h0m1 0h0m107 0h0m-67 1h0m70 0h0m-110 1h0m1 0h0m39 0h0m-66 1h0m27 0h0m70 0h0m42 0h0m-42 3h0m-27 1h0m1 0h0m-71 1h0m29 0h0m117 0h0m-47 1h0m-69 1h0m44 0h0m73 0h0m-116 1h0m68 0h0m50 0h0m-150 1h0m1 0h0m76 0h0m73 0h0m-116 1h0m119 0h0m-105 1h0m107 0h0m-154 1h0m49 0h0m31 0h0m20 0h0m-63 1h0m64 0h0m-20 1h0m74 1h0m2 0h0m-115 1h0m12 0h0m30 0h0m75 0h0m-157 1h0m159 0h0m-157 1h0m40 0h0m59 0h0m-58 1h0m12 0h0m29 0h0m19 0h0m56 0h0m-154 1h0m1 0h0m39 0h0m12 0h0m-11 1h0m117 0h0m1 0h0m-155 1h0m50 0h0m-48 1h0m39 0h0m37 0h0m-74 1h0m51 0h0m0 1h0m42 0h0m-85 1h0m33 1h0m53 0h0m-82 1h0m31 0h0m-29 1h0m42 1h0m40 0h0m59 0h0m-76 1h0m78 0h0m-100 1h0m-11 1h0m112 0h0m-133 1h0m59 0h0m-1 1h0m76 1h0m1 0h0m-100 1h0m24 0h0m18 0h0m-72 1h0m20 0h0m10 0h0m26 1h0m-25 1h0m-28 1h0m21 0h0m8 0h0m26 0h0m23 0h0m52 0h0m-129 1h0m0 1h0m56 0h0m22 0h0m3 0h0m1 1h0m-59 1h0m34 0h0m29 1h0m46 0h0m-107 1h0m108 0h0m-129 1h0m27 0h0m59 0h0m1 0h0m1 0h0m-88 1h0m21 0h0m8 0h0m59 0h0m2 0h0m-89 1h0m89 0h0m40 0h0m-101 1h0m28 0h0m74 1h0m-99 2h0m29 0h0m-36 1h0m8 0h0m31 1h0m-38 1h0m9 0h0m-30 1h0m66 0h0m1 0h0m-66 1h0m30 0h0m-7 2h0m9 0h0m49 1h0m-47 1h0m51 0h0m46 0h0m-97 1h0m2 1h0m-6 1h0m7 0h0m55 0h0m39 0h0m1 0h0m-100 1h0m14 1h0m-8 1h0m8 0h0m87 0h0m-91 2h0m93 1h0m-129 1h0m1 0h0m54 0h0m-54 1h0m41 0h0m2 1h0m19 0h0m-61 1h0m60 0h0m68 0h0m-74 1h0m13 0h0m62 0h0m-124 1h0m64 0h0m1 0h0m-61 1h0m40 0h0m1 0h0m1 0h0m19 0h0m-17 1h0m8 0h0m-48 1h0m118 0h0m-117 1h0m55 0h0m-50 1h0m40 0h0m1 0h0m11 0h0m62 0h0m-72 1h0m2 0h0m11 0h0m3 1h0m3 1h0m-46 1h0m34 0h0m13 0h0m56 0h0m-55 1h0m1 0h0m-13 1h0m1 0h0m1 0h0m3 0h0m3 0h0m1 0h0m5 0h0m-19 1h0m2 0h0m6 0h0m14 0h0m-44 1h0m6 0h0m5 0h0m2 0h0m4 0h0m16 0h0m65 1h0m-148 1h0m88 0h0m3 1h0m9 0h0m-7 1h0m57 0h0m-46 1h0m46 0h0m2 1h0m-83 1h0m31 1h0m-28 1h0m1 0h0m30 0h0m8 0h0m-67 2h0m25 0h0m1 0h0m-25 1h0m2 0h0m29 0h0m-29 1h0m1 0h0m24 0h0m5 0h0m36 0h0m4 0h0m-68 1h0m27 0h0m-81 1h0m56 0h0m24 0h0m1 0h0m4 0h0m37 0h0m4 0h0m-69 1h0m1 0h0m69 0h0m-43 1h0m39 0h0m37 0h0m1 0h0m-101 1h0m69 0h0m-37 1h0m69 0h0m-113 1h0m14 0h0m3 0h0m-2 1h0m3 0h0m27 0h0m-43 1h0m41 0h0m1 0h0m3 0h0m68 1h0m-171 1h0m77 0h0m1 0h0m2 0h0m-75 1h0m1 0h0m49 0h0m9 0h0m39 0h0m-160 1h0m114 0h0m113 0h0m-225 1h0m49 0h0m1 0h0m87 1h0m1 0h0m-137 1h0m123 0h0m16 0h0m-137 1h0m43 0h0m70 0h0m25 0h0m3 0h0m82 0h0m-224 1h0m2 0h0m114 0h0m49 0h0m4 0h0m-127 1h0m86 0h0m96 0h0m-112 1h0m34 0h0m24 0h0m54 0h0m-92 1h0m16 0h0m23 0h0m-161 1h0m104 0h0m10 0h0m22 0h0m1 0h0m26 0h0m-161 1h0m10 0h0m4 0h0m89 0h0m2 0h0m16 0h0m37 0h0m5 0h0m-56 1h0m17 0h0m2 1h0m12 0h0m-22 1h0m10 0h0m1 0h0m11 0h0m2 0h0m69 1h0m-90 1h0m-4 1h0m30 0h0m-28 1h0m30 0h0m19 1h0m41 0h0m-1 1h0m-122 1h0m1 0h0m37 1h0m30 0h0m1 0h0m-64 1h0m49 0h0m67 0h0m-81 1h0m2 0h0m-33 1h0m33 0h0m2 0h0m11 0h0m-44 1h0m46 0h0m-44 1h0m33 0h0m1 1h0m13 0h0m60 0h0m-104 1h0m76 0h0m-75 1h0m77 0h0m-73 2h0m1 0h0m44 1h0m21 1h0m-60 1h0m27 0h0m15 0h0m15 0h0m5 0h0m27 0h0m-63 1h0m1 0h0m31 0h0m4 0h0m26 0h0m1 0h0m-87 1h0m1 0h0m26 0h0m1 1h0m35 0h0m9 0h0m-66 2h0m23 0h0m56 0h0m-55 1h0m35 0h0m19 0h0m-76 1h0m22 0h0m-22 1h0m39 0h0m-13 1h0m30 0h0m-51 2h0m73 0h0m-73 1h0m24 0h0m48 0h0m1 0h0m-71 1h0m38 0h0m-16 1h0m44 1h0m-63 1h0m3 3h0m21 0h0m1 0h0m-20 1h0m55 0h0m-53 2h0m35 0h0m-13 1h0m-21 1h0m22 0h0m35 0h0m-57 1h0m49 0h0m-26 1h0m13 0h0m22 1h0m-32 2h0m22 0h0m1 0h0m6 0h0m-49 1h0m48 0h0m5 0h0m-52 1h0m22 1h0m1 1h0m16 2h0m7 0h0m-48 1h0m1 0h0m55 0h0m-8 1h0m8 0h0m-8 1h0m-9 1h0m8 1h0m-1 1h0m-47 2h0m47 0h0m-1 1h0m-8 1h0m-39 1h0m-1 2h0m39 0h0m-41 2h0m16 0h0m26 0h0m1 0h0m-27 1h0m26 0h0m11 0h0m-56 1h0m19 0h0m27 0h0m-47 1h0m48 0h0m-26 1h0m15 0h0m11 0h0m-26 1h0m1 0h0m-27 1h0m35 0h0m28 0h0m-35 1h0m16 1h0m-46 1h0m32 0h0m6 0h0m8 0h0m-49 1h0m41 0h0m12 0h0m6 0h0m-60 1h0m60 0h0m-61 1h0m39 0h0m6 0h0m-47 2h0m47 0h0m14 0h0m-63 1h0m59 0h0m19 0h0m-19 1h0m5 0h0m1 0h0m13 1h0m-82 2h0m43 0h0m40 0h0m-31 1h0m4 0h0m28 0h0m-29 1h0m3 2h0m16 0h0m-16 1h0m1 0h0m-13 1h0m30 0h0m-6 1h0m-10 1h0m1 1h0m10 1h0m9 0h0m-18 2h0m2 0h0m15 0h0m0 2h0m1 1h0m2 1h0m-30 1h0m1 0h0m1 2h0m16 0h0m0 1h0m20 2h0m-21 1h0m4 0h0m8 1h0m7 0h0m8 3h0m-19 1h0m18 0h0m-23 1h0m24 0h0m-17 1h0m13 0h0m-14 1h0m15 0h0m1 0h0m5 0h0m-6 1h0m-11 1h0m18 0h0m-38 2h0m19 0h0m14 0h0m1 2h0m7 0h0m-39 2h0m12 0h0m29 0h0m-20 1h0m13 0h0m1 0h0m-14 2h0m19 0h0m3 0h0m-21 1h0m0 1h0m19 0h0m-18 1h0m18 0h0m-25 1h0m8 0h0m-20 1h0m14 1h0m7 0h0m13 0h0m1 1h0m-20 3h0m7 0h0m-7 1h0m8 0h0m15 0h0m-36 1h0m14 0h0m-12 1h0m-1 1h0m16 1h0m20 0h0m-35 2h0m0 1h0m1 0h0m-1 1h0m27 2h0m9 0h0m-18 1h0m9 0h0m-25 2h0m18 0h0m-17 2h0m35 1h0m-6 1h0m-28 2h0m16 0h0m15 0h0m-12 1h0m10 0h0m-9 1h0m10 0h0m9 0h0m-6 1h0m-15 1h0m15 0h0m3 1h0m-16 1h0m2 0h0m-18 1h0m31 0h0m1 0h0m-32 1h0m32 1h0m-32 1h0m33 0h0m-32 1h0m19 0h0m14 0h0m-32 1h0m35 0h0m-2 6h0m4 1h0m-18 1h0m0 1h0m-17 1h0m35 0h0m0 1h0m-33 1h0m2 2h0m33 2h0m-32 1h0m12 0h0m15 0h0m1 1h0m-28 1h0m27 0h0m1 0h0m5 1h0m-33 1h0m1 0h0m0 1h0m11 0h0m1 0h0m2 0h0m-18 1h0m5 0h0m27 1h0m5 1h0m-19 1h0m14 1h0m-13 1h0m-2 2h0m2 0h0m-13 1h0m1 0h0m-7 1h0m6 0h0m1 0h0m-7 2h0m1 0h0m37 0h0m-38 1h0m1 1h0m0 1h0m7 1h0m27 1h0m-15 1h0m15 0h0m-1 1h0m-32 1h0m9 3h0m25 0h0m5 0h0m-39 2h0m19 0h0m-9 2h0m10 0h0m16 1h0m4 0h0m-4 2h0m4 0h0m-4 1h0m0 1h0m1 1h0m-35 2h0m9 0h0m26 0h0m-35 3h0m37 2h0" stroke="#c09070" stroke-width="1.0" stroke-linecap="square"/>
<path d="M998 287h0m4 2h0m3 0h0m-1 1h0m3 1h0m10 3h0m5 1h0m-1 1h0m2 0h0m2 1h0m4 1h0m1 0h0m3 2h0m5 1h0m4 1h0m-72 1h0m-1 1h0m-2 1h0m81 0h0m-81 1h0m-2 1h0m2 0h0m86 1h0m-93 2h0m1 0h0m95 0h0m3 1h0m-100 1h0m101 0h0m6 1h0m-1 1h0m4 1h0m2 2h0m-119 2h0m124 0h0m4 2h0m1 1h0m-68 1h0m2 1h0m-39 1h0m-28 1h0m27 0h0m70 0h0m-97 1h0m70 0h0m72 0h0m-142 1h0m70 0h0m74 1h0m-114 1h0m69 0h0m46 0h0m-100 1h0m101 0h0m-115 1h0m68 0h0m-99 1h0m32 1h0m44 0h0m-76 1h0m32 0h0m45 0h0m73 0h0m1 0h0m2 1h0m-74 1h0m1 0h0m1 0h0m20 0h0m-63 2h0m13 0h0m51 0h0m54 0h0m-156 1h0m53 1h0m31 0h0m75 0h0m-155 1h0m39 0h0m42 0h0m74 0h0m1 0h0m-117 1h0m118 0h0m1 0h0m-104 1h0m107 1h0m-118 1h0m-37 1h0m38 0h0m118 0h0m-60 1h0m2 0h0m-55 1h0m-35 1h0m49 0h0m23 0h0m78 0h0m-149 1h0m37 0h0m35 0h0m78 1h0m-143 1h0m44 0h0m40 0h0m61 1h0m-113 1h0m1 0h0m36 0h0m77 0h0m-77 1h0m-56 1h0m22 0h0m11 0h0m100 0h0m-100 1h0m-30 2h0m21 0h0m-21 1h0m2 1h0m55 0h0m1 0h0m-35 1h0m10 0h0m26 0h0m-34 1h0m52 0h0m2 0h0m57 1h0m-131 1h0m1 0h0m29 0h0m0 1h0m49 0h0m2 0h0m51 0h0m-129 2h0m21 0h0m8 0h0m26 0h0m25 0h0m-58 1h0m62 0h0m45 0h0m-73 1h0m30 0h0m1 1h0m1 0h0m1 1h0m-85 2h0m21 0h0m68 0h0m-88 1h0m20 0h0m8 0h0m64 0h0m-63 1h0m-7 1h0m7 0h0m28 0h0m-56 1h0m22 1h0m8 0h0m30 0h0m-29 1h0m32 0h0m-40 1h0m108 0h0m-107 1h0m48 1h0m-46 2h0m55 0h0m1 1h0m2 0h0m-57 1h0m10 0h0m47 0h0m-55 1h0m8 0h0m98 0h0m-129 1h0m87 0h0m-61 1h0m3 1h0m8 0h0m1 0h0m91 0h0m-97 1h0m2 0h0m9 0h0m49 0h0m-49 1h0m3 1h0m-5 1h0m91 0h0m-128 1h0m49 0h0m2 0h0m-12 1h0m13 0h0m2 0h0m-53 1h0m40 0h0m1 0h0m18 0h0m69 0h0m-85 1h0m9 1h0m1 0h0m9 0h0m67 0h0m-129 1h0m1 0h0m1 0h0m1 0h0m45 0h0m17 0h0m1 0h0m-61 1h0m1 0h0m42 0h0m1 0h0m-40 1h0m43 0h0m10 0h0m8 0h0m2 0h0m58 0h0m-119 1h0m63 0h0m-60 1h0m42 0h0m75 0h0m-113 1h0m50 0h0m63 0h0m1 1h0m-112 1h0m2 0h0m111 0h0m1 0h0m-108 1h0m39 1h0m-36 1h0m39 0h0m-35 1h0m3 0h0m34 0h0m14 0h0m-14 1h0m1 0h0m1 0h0m5 0h0m9 0h0m-47 1h0m28 0h0m9 0h0m-83 1h0m61 0h0m8 0h0m1 0h0m77 0h0m-92 1h0m3 0h0m30 1h0m3 0h0m58 0h0m-150 1h0m1 0h0m67 2h0m28 0h0m2 1h0m-28 1h0m-4 1h0m1 0h0m32 0h0m10 0h0m45 0h0m-50 1h0m8 0h0m-114 1h0m106 0h0m1 0h0m1 0h0m50 0h0m-157 1h0m46 0h0m1 0h0m25 0h0m-24 1h0m1 1h0m26 0h0m4 0h0m32 0h0m9 0h0m-68 2h0m1 0h0m2 2h0m2 0h0m29 0h0m34 0h0m2 0h0m1 0h0m1 0h0m33 0h0m-99 1h0m29 0h0m71 0h0m-98 1h0m26 0h0m38 0h0m-64 1h0m2 0h0m2 0h0m95 0h0m-234 1h0m114 0h0m50 0h0m-93 1h0m51 0h0m1 0h0m17 0h0m-1 1h0m1 0h0m3 0h0m92 0h0m-172 1h0m1 0h0m54 0h0m1 0h0m21 0h0m3 0h0m-81 1h0m-55 1h0m53 0h0m1 0h0m8 0h0m51 0h0m1 0h0m8 0h0m14 0h0m26 0h0m4 0h0m-50 1h0m21 0h0m26 0h0m-161 1h0m48 0h0m1 0h0m89 0h0m25 0h0m63 0h0m-111 1h0m1 0h0m7 0h0m46 0h0m-165 1h0m137 0h0m3 0h0m23 0h0m-38 1h0m37 0h0m-55 1h0m2 0h0m15 0h0m16 0h0m82 0h0m-78 1h0m20 0h0m-162 1h0m34 0h0m76 0h0m6 0h0m1 0h0m46 0h0m5 0h0m-161 1h0m103 0h0m19 0h0m15 0h0m25 0h0m49 0h0m-206 1h0m11 0h0m96 0h0m46 0h0m2 0h0m-22 1h0m73 0h0m-102 1h0m1 0h0m51 0h0m49 0h0m-93 1h0m2 0h0m8 0h0m34 0h0m49 0h0m-99 1h0m18 0h0m13 0h0m-29 1h0m51 0h0m7 0h0m-56 1h0m32 0h0m17 0h0m9 1h0m35 0h0m-124 1h0m50 0h0m16 0h0m58 0h0m-88 1h0m30 0h0m1 0h0m16 0h0m1 1h0m1 1h0m-80 1h0m35 0h0m46 0h0m-78 1h0m80 0h0m33 0h0m-33 1h0m34 0h0m-64 1h0m16 0h0m1 0h0m15 0h0m-14 1h0m-62 1h0m2 0h0m75 0h0m-75 1h0m1 0h0m45 0h0m-43 1h0m45 1h0m16 0h0m6 0h0m-35 1h0m1 0h0m67 0h0m-94 1h0m62 0h0m9 0h0m-70 1h0m42 0h0m15 0h0m14 0h0m-70 1h0m28 0h0m29 0h0m5 0h0m-3 1h0m4 0h0m1 0h0m-35 1h0m1 0h0m43 0h0m-28 1h0m46 0h0m-84 1h0m1 0h0m38 0h0m21 0h0m22 0h0m-42 1h0m1 0h0m28 0h0m-43 1h0m31 0h0m-52 2h0m39 0h0m19 0h0m19 0h0m1 0h0m-23 1h0m3 0h0m16 0h0m3 0h0m-20 1h0m-54 1h0m70 0h0m-30 1h0m34 0h0m-33 2h0m2 0h0m25 0h0m5 0h0m-47 1h0m16 0h0m1 0h0m-38 1h0m23 0h0m-22 1h0m24 0h0m34 0h0m-57 1h0m1 0h0m21 0h0m36 0h0m7 0h0m-42 1h0m15 0h0m26 0h0m-62 1h0m1 0h0m22 0h0m36 0h0m4 0h0m-60 2h0m56 0h0m-34 1h0m14 0h0m1 0h0m-14 1h0m36 0h0m-56 1h0m48 0h0m1 0h0m8 0h0m-56 1h0m35 0h0m18 1h0m-51 1h0m45 0h0m-44 1h0m1 0h0m21 0h0m21 0h0m-21 1h0m32 0h0m-5 1h0m-47 1h0m40 0h0m7 0h0m-47 1h0m40 0h0m-40 1h0m37 3h0m-39 1h0m47 2h0m-9 1h0m1 1h0m20 1h0m-60 2h0m38 1h0m10 0h0m-51 1h0m41 0h0m23 1h0m-23 1h0m23 0h0m-23 1h0m-25 2h0m36 0h0m-36 1h0m-22 2h0m23 0h0m16 0h0m-43 1h0m36 0h0m8 0h0m-14 1h0m14 0h0m21 0h0m-66 1h0m31 1h0m8 1h0m28 0h0m-10 1h0m-23 1h0m19 0h0m14 0h0m1 0h0m-19 1h0m5 0h0m3 0h0m-65 1h0m2 0h0m33 0h0m8 0h0m0 1h0m2 0h0m18 0h0m-64 1h0m60 0h0m18 0h0m-79 1h0m52 0h0m16 0h0m-20 1h0m13 0h0m6 0h0m14 0h0m-84 1h0m52 0h0m5 0h0m8 0h0m1 0h0m-66 1h0m55 0h0m11 0h0m6 0h0m11 0h0m-27 1h0m17 0h0m-6 1h0m-21 1h0m11 0h0m18 0h0m9 0h0m-25 1h0m0 1h0m10 0h0m-23 1h0m30 0h0m1 0h0m1 0h0m-8 1h0m1 0h0m-10 1h0m1 0h0m15 0h0m-15 2h0m19 0h0m-18 1h0m16 0h0m3 0h0m-2 1h0m0 1h0m-16 1h0m10 0h0m1 1h0m6 0h0m2 0h0m-1 1h0m4 1h0m2 0h0m-19 1h0m8 0h0m-11 1h0m1 0h0m3 0h0m15 0h0m8 0h0m-22 1h0m19 0h0m3 0h0m-25 1h0m3 0h0m-2 1h0m26 1h0m1 2h0m-4 3h0m6 1h0m-18 2h0m19 0h0m-18 2h0m19 0h0m-25 1h0m20 0h0m5 0h0m-25 2h0m7 1h0m14 0h0m1 0h0m5 0h0m-38 1h0m38 0h0m0 1h0m5 0h0m-8 2h0m1 0h0m-22 1h0m1 0h0m7 0h0m13 0h0m5 0h0m4 0h0m-4 1h0m-37 1h0m14 1h0m1 0h0m5 0h0m18 0h0m-17 1h0m14 0h0m-34 1h0m22 1h0m13 0h0m-21 1h0m8 0h0m0 1h0m-6 1h0m0 1h0m22 0h0m-20 1h0m8 1h0m-1 1h0m14 0h0m-21 1h0m1 0h0m21 1h0m-22 1h0m2 3h0m21 0h0m-36 1h0m27 1h0m-11 2h0m1 1h0m2 0h0m-15 2h0m16 0h0m17 0h0m-34 1h0m35 0h0m-17 1h0m16 0h0m-32 1h0m28 0h0m4 0h0m4 0h0m1 0h0m-21 1h0m20 1h0m1 0h0m-36 3h0m0 1h0m18 0h0m15 0h0m-32 1h0m31 0h0m-31 1h0m18 0h0m18 0h0m-36 1h0m19 0h0m-18 1h0m16 0h0m3 0h0m13 0h0m1 1h0m-32 1h0m16 0h0m2 1h0m1 0h0m17 1h0m-20 2h0m19 1h0m-3 1h0m-31 1h0m16 0h0m20 0h0m0 1h0m-3 2h0m4 0h0m-35 1h0m17 0h0m-16 1h0m30 1h0m-29 1h0m1 1h0m-4 2h0m5 0h0m28 0h0m4 0h0m-37 1h0m33 0h0m4 0h0m-20 2h0m0 1h0m21 0h0m-21 1h0m-16 1h0m5 1h0m1 0h0m12 2h0m1 0h0m-2 1h0m1 0h0m-17 1h0m17 0h0m0 2h0m16 0h0m-27 2h0m27 0h0m5 1h0m-31 1h0m13 1h0m-19 1h0m18 0h0m19 0h0m-37 2h0m19 1h0m20 0h0m-19 1h0m13 0h0m-32 2h0m18 0h0m21 0h0m-6 1h0m7 2h0m-21 1h0m15 0h0m0 1h0m-25 1h0m0 1h0m-8 3h0m9 0h0m1 2h0m25 2h0m-35 1h0m40 0h0m-39 1h0m37 2h0m-1 1h0m4 0h0m-4 1h0" stroke="#d0b090" stroke-width="1.0" stroke-linecap="square"/>
<path d="M998 288h0m3 0h0m6 2h0m1 1h0m3 1h0m6 2h0m2 0h0m1 1h0m3 2h0m6 0h0m8 3h0m7 3h0m5 2h0m-84 2h0m-3 2h0m95 0h0m-97 2h0m101 1h0m1 0h0m-105 2h0m-3 2h0m0 1h0m117 0h0m4 1h0m2 2h0m-104 1h0m13 0h0m-12 2h0m-25 1h0m26 0h0m39 0h0m-66 1h0m27 0h0m70 0h0m42 0h0m-139 1h0m98 0h0m42 0h0m-140 1h0m142 1h0m1 0h0m-72 1h0m27 0h0m-98 1h0m29 0h0m44 0h0m-43 1h0m43 0h0m74 0h0m-101 1h0m28 0h0m74 0h0m-48 1h0m-24 1h0m24 0h0m49 0h0m-101 1h0m30 0h0m-78 1h0m35 1h0m66 0h0m-65 1h0m1 0h0m12 0h0m53 0h0m53 0h0m-155 1h0m50 0h0m-10 1h0m62 0h0m56 0h0m-117 1h0m117 0h0m-73 1h0m75 0h0m-103 1h0m28 0h0m18 0h0m-97 1h0m81 0h0m77 1h0m-155 1h0m1 0h0m1 0h0m37 0h0m14 0h0m-51 1h0m37 0h0m13 0h0m45 0h0m-93 1h0m76 0h0m-75 1h0m76 0h0m18 0h0m-91 1h0m37 0h0m-34 1h0m1 0h0m71 0h0m76 0h0m1 0h0m-99 2h0m99 0h0m-76 1h0m18 0h0m-77 1h0m25 0h0m1 0h0m11 0h0m23 0h0m1 1h0m17 0h0m-74 1h0m75 0h0m-73 1h0m73 0h0m61 0h0m-77 1h0m2 1h0m16 0h0m58 0h0m-108 1h0m9 0h0m101 0h0m-109 1h0m33 0h0m17 0h0m-49 1h0m50 0h0m60 0h0m-110 1h0m51 0h0m1 0h0m58 0h0m0 1h0m-131 1h0m2 0h0m20 0h0m1 0h0m-20 1h0m76 0h0m1 0h0m-77 1h0m56 0h0m-55 1h0m129 0h0m-128 1h0m83 0h0m46 0h0m-75 1h0m30 0h0m1 0h0m45 0h0m-108 1h0m68 1h0m-88 1h0m90 0h0m0 1h0m3 0h0m38 1h0m-128 1h0m20 0h0m1 1h0m7 0h0m28 0h0m-35 1h0m35 0h0m2 1h0m1 0h0m-59 1h0m23 0h0m40 0h0m67 0h0m-128 1h0m64 0h0m-42 2h0m47 0h0m61 0h0m-107 1h0m48 0h0m3 0h0m-47 4h0m2 0h0m56 0h0m1 0h0m-81 3h0m29 0h0m1 0h0m7 0h0m1 0h0m54 0h0m-62 1h0m4 2h0m96 0h0m-80 1h0m-12 1h0m18 0h0m75 0h0m-90 1h0m5 1h0m15 0h0m-5 1h0m6 0h0m-57 1h0m43 0h0m7 0h0m3 0h0m-52 1h0m1 0h0m43 0h0m1 0h0m8 0h0m10 0h0m64 0h0m-124 1h0m44 0h0m8 0h0m-49 1h0m43 0h0m20 0h0m59 0h0m-78 1h0m20 0h0m-59 1h0m41 0h0m1 0h0m-41 1h0m2 0h0m41 0h0m-39 1h0m42 0h0m8 0h0m-43 1h0m38 0h0m10 0h0m3 1h0m-11 1h0m12 0h0m4 1h0m2 0h0m52 0h0m-63 1h0m6 0h0m5 0h0m2 0h0m-51 1h0m35 0h0m4 0h0m3 0h0m-18 1h0m6 0h0m10 0h0m-33 1h0m1 0h0m97 0h0m-95 1h0m1 0h0m9 0h0m24 0h0m1 0h0m1 0h0m-25 1h0m88 1h0m-151 1h0m66 0h0m85 0h0m-46 1h0m-9 1h0m2 0h0m-99 1h0m154 0h0m-154 1h0m72 0h0m1 0h0m29 0h0m1 0h0m7 0h0m-5 1h0m1 0h0m-107 1h0m46 0h0m61 0h0m-60 1h0m61 0h0m4 0h0m3 0h0m3 0h0m-68 1h0m29 0h0m-29 1h0m1 0h0m65 0h0m3 0h0m-67 1h0m31 0h0m-85 1h0m81 0h0m40 0h0m-121 1h0m59 0h0m64 0h0m-64 1h0m2 0h0m24 0h0m4 0h0m-28 1h0m1 0h0m65 0h0m-128 1h0m63 0h0m99 0h0m-234 1h0m162 0h0m1 0h0m-162 1h0m121 0h0m16 0h0m25 0h0m70 0h0m-93 1h0m2 0h0m1 0h0m27 0h0m65 0h0m-68 1h0m3 0h0m-52 1h0m23 0h0m4 0h0m26 0h0m-23 1h0m1 0h0m19 0h0m3 0h0m1 0h0m63 0h0m1 0h0m-174 1h0m88 0h0m22 0h0m-163 1h0m51 0h0m9 0h0m62 0h0m41 0h0m3 0h0m-42 1h0m14 0h0m26 0h0m-47 1h0m1 0h0m22 0h0m1 0h0m26 0h0m-22 1h0m21 0h0m3 0h0m-164 1h0m113 0h0m-113 1h0m40 0h0m68 0h0m35 0h0m24 0h0m-129 1h0m1 0h0m88 0h0m-8 1h0m28 0h0m25 0h0m-138 1h0m88 0h0m9 0h0m15 0h0m22 0h0m4 0h0m48 0h0m1 0h0m-215 1h0m108 0h0m1 0h0m15 0h0m1 0h0m14 0h0m2 0h0m73 0h0m-191 1h0m1 0h0m86 0h0m53 0h0m6 0h0m-24 1h0m68 0h0m-100 1h0m7 0h0m51 0h0m-49 1h0m10 0h0m16 0h0m17 0h0m48 0h0m-96 1h0m30 0h0m19 0h0m-31 1h0m12 0h0m20 0h0m-32 1h0m41 0h0m-40 1h0m2 0h0m15 0h0m25 0h0m-93 1h0m1 0h0m40 1h0m-35 1h0m2 0h0m31 0h0m17 0h0m-51 1h0m4 0h0m115 0h0m-50 1h0m1 0h0m-64 1h0m1 0h0m62 0h0m2 0h0m-64 1h0m80 0h0m-77 1h0m35 0h0m43 0h0m-73 1h0m58 0h0m4 2h0m39 0h0m0 1h0m-54 1h0m17 1h0m-56 1h0m92 0h0m-34 1h0m4 0h0m10 0h0m-43 1h0m31 0h0m31 0h0m-60 1h0m-24 1h0m39 0h0m29 0h0m17 0h0m-84 1h0m81 0h0m-79 1h0m39 0h0m-38 2h0m1 0h0m78 0h0m-53 2h0m16 0h0m14 0h0m-29 1h0m49 0h0m-32 1h0m15 0h0m-53 1h0m40 0h0m18 0h0m-56 2h0m3 1h0m21 0h0m15 0h0m-36 1h0m22 0h0m40 0h0m-3 1h0m-36 1h0m-20 1h0m20 0h0m1 0h0m36 0h0m0 1h0m-54 1h0m21 0h0m14 0h0m21 0h0m3 0h0m-59 1h0m22 0h0m30 0h0m-51 1h0m35 0h0m2 0h0m-36 1h0m21 0h0m15 0h0m1 0h0m20 0h0m-35 1h0m-18 2h0m20 0h0m-19 1h0m54 0h0m0 1h0m-31 1h0m0 1h0m2 2h0m1 0h0m16 0h0m-40 1h0m25 0h0m22 0h0m-9 4h0m7 0h0m10 1h0m-57 1h0m39 1h0m1 0h0m-41 1h0m47 1h0m13 0h0m-14 1h0m-8 1h0m-40 2h0m40 0h0m11 1h0m-38 1h0m50 0h0m1 0h0m-66 1h0m42 0h0m24 0h0m-13 2h0m-35 2h0m-26 2h0m27 0h0m16 0h0m20 0h0m-10 1h0m-55 1h0m38 0h0m11 0h0m17 0h0m-35 1h0m19 0h0m-53 2h0m1 0h0m54 0h0m5 0h0m-23 1h0m17 0h0m-3 1h0m5 0h0m15 0h0m-13 1h0m14 0h0m-77 1h0m1 0h0m35 0h0m0 1h0m14 0h0m9 0h0m4 0h0m3 0h0m-69 1h0m39 0h0m27 0h0m1 0h0m-27 1h0m8 0h0m3 0h0m17 0h0m1 0h0m11 0h0m-16 1h0m4 0h0m2 0h0m-29 1h0m30 0h0m-18 1h0m19 1h0m11 0h0m-41 1h0m14 0h0m1 0h0m-1 1h0m11 0h0m6 0h0m1 0h0m-31 1h0m1 0h0m30 0h0m-16 1h0m18 0h0m-17 2h0m1 0h0m9 0h0m-9 1h0m-13 1h0m14 0h0m10 0h0m-9 2h0m0 1h0m10 0h0m8 1h0m3 0h0m-17 2h0m15 0h0m1 0h0m7 0h0m1 0h0m-27 1h0m27 0h0m-5 1h0m-8 3h0m-6 1h0m0 1h0m3 2h0m-5 1h0m18 0h0m8 1h0m0 1h0m-25 1h0m25 0h0m1 1h0m-37 1h0m38 0h0m-5 1h0m-13 1h0m13 0h0m-32 1h0m40 0h0m0 1h0m-6 1h0m1 1h0m-14 1h0m22 0h0m1 1h0m-28 1h0m21 0h0m-33 1h0m42 0h0m-30 1h0m8 0h0m18 1h0m-37 2h0m14 0h0m20 0h0m5 0h0m-2 3h0m3 1h0m-23 1h0m20 0h0m-19 1h0m24 0h0m-39 1h0m21 0h0m1 0h0m13 0h0m4 0h0m-25 1h0m22 0h0m-20 1h0m25 0h0m-25 1h0m21 0h0m-36 1h0m15 0h0m2 1h0m9 2h0m-8 2h0m19 0h0m4 0h0m0 1h0m1 0h0m-24 1h0m20 0h0m-34 2h0m15 1h0m-14 1h0m16 0h0m18 0h0m-7 1h0m-27 1h0m1 1h0m28 0h0m1 0h0m0 1h0m-29 1h0m16 0h0m13 0h0m1 0h0m5 0h0m-1 1h0m-3 1h0m3 0h0m-2 1h0m-31 1h0m1 0h0m30 0h0m-29 2h0m18 0h0m-2 1h0m-16 1h0m1 0h0m32 1h0m1 0h0m-32 1h0m34 0h0m-34 1h0m36 1h0m-20 2h0m-1 1h0m3 0h0m14 1h0m0 1h0m1 1h0m-32 1h0m1 0h0m31 0h0m-30 1h0m13 0h0m4 0h0m13 0h0m-16 1h0m1 1h0m20 0h0m-18 2h0m-2 2h0m2 0h0m14 0h0m-31 2h0m37 2h0m-19 1h0m0 1h0m14 0h0m-15 1h0m-17 3h0m33 0h0m-27 1h0m0 1h0m14 0h0m13 0h0m1 0h0m4 0h0m-5 1h0m-32 2h0m7 0h0m10 0h0m2 1h0m19 1h0m-38 1h0m19 0h0m0 1h0m-18 2h0m18 1h0m-11 1h0m10 0h0m1 0h0m21 1h0m-39 1h0m33 0h0m-15 1h0m15 0h0m1 0h0m-25 1h0m10 1h0m15 1h0m0 1h0m-33 1h0m8 0h0m-9 1h0m20 0h0m-10 2h0m31 0h0m-39 1h0m19 1h0m16 2h0m-26 2h0m31 0h0m-4 2h0m-35 1h0m36 3h0m1 1h0m1 1h0m-1 1h0" stroke="#b08060" stroke-width="1.0" stroke-linecap="square"/>
<path d="M995 286h0m2 2h0m2 0h0m1 0h0m6 2h0m4 2h0m3 1h0m6 2h0m2 0h0m6 2h0m1 1h0m7 2h0m4 2h0m-72 3h0m79 0h0m5 2h0m2 1h0m1 0h0m5 3h0m1 0h0m1 1h0m-104 1h0m2 0h0m106 1h0m-110 1h0m114 1h0m3 1h0m-120 2h0m123 0h0m-102 1h0m104 0h0m1 1h0m2 0h0m-130 1h0m38 1h0m-40 1h0m27 0h0m13 0h0m98 0h0m-97 1h0m1 1h0m27 0h0m71 0h0m-98 1h0m26 0h0m29 0h0m-68 1h0m41 0h0m72 0h0m-142 1h0m0 1h0m29 0h0m1 1h0m117 0h0m-147 1h0m74 0h0m1 0h0m24 0h0m49 0h0m1 0h0m-149 1h0m46 0h0m103 0h0m-117 2h0m68 0h0m-66 1h0m14 0h0m29 0h0m2 0h0m-44 1h0m120 0h0m-74 1h0m21 0h0m-62 2h0m42 0h0m75 0h0m1 0h0m-155 1h0m50 0h0m49 0h0m57 0h0m-158 1h0m2 0h0m40 0h0m-40 1h0m54 0h0m46 0h0m1 1h0m59 0h0m-156 1h0m80 0h0m18 1h0m1 0h0m60 1h0m-155 1h0m156 0h0m-151 1h0m2 0h0m89 0h0m61 0h0m-113 2h0m14 0h0m40 0h0m-53 1h0m14 0h0m22 0h0m18 0h0m-83 1h0m1 0h0m42 0h0m-41 1h0m29 1h0m13 0h0m-33 2h0m1 1h0m22 0h0m52 0h0m-72 1h0m22 0h0m35 1h0m-54 1h0m31 0h0m-31 1h0m22 0h0m34 0h0m-55 1h0m0 1h0m72 0h0m2 0h0m-72 1h0m0 1h0m56 0h0m-33 1h0m-20 1h0m21 1h0m34 0h0m27 0h0m0 1h0m2 0h0m46 0h0m-74 1h0m30 0h0m-28 1h0m-55 1h0m88 0h0m-33 1h0m34 0h0m41 0h0m-40 1h0m-67 1h0m34 0h0m38 1h0m-36 1h0m-27 1h0m29 1h0m4 1h0m-60 1h0m21 0h0m10 1h0m38 0h0m-47 1h0m10 0h0m37 0h0m4 0h0m-71 1h0m21 0h0m50 0h0m1 0h0m-42 1h0m1 0h0m1 1h0m1 0h0m44 0h0m-54 1h0m57 0h0m-46 1h0m54 1h0m1 0h0m-86 1h0m26 0h0m59 0h0m-86 1h0m37 0h0m51 0h0m-56 1h0m2 0h0m-1 1h0m12 0h0m3 1h0m-11 1h0m15 0h0m79 1h0m-85 2h0m15 0h0m2 0h0m69 0h0m-87 1h0m1 0h0m9 0h0m5 2h0m12 0h0m2 0h0m60 0h0m-62 1h0m-16 1h0m8 0h0m70 0h0m1 0h0m-120 1h0m52 0h0m3 0h0m-10 1h0m12 0h0m-49 1h0m39 0h0m10 0h0m2 1h0m62 0h0m-111 1h0m113 0h0m-108 1h0m37 0h0m3 0h0m11 0h0m-45 2h0m39 1h0m12 0h0m2 0h0m53 0h0m-103 1h0m33 0h0m3 0h0m1 0h0m1 0h0m2 0h0m11 0h0m-23 1h0m25 0h0m2 0h0m49 0h0m-145 1h0m49 0h0m1 0h0m8 0h0m9 0h0m-6 1h0m1 0h0m35 0h0m-11 1h0m11 0h0m2 0h0m-10 1h0m60 0h0m-47 1h0m-8 1h0m59 0h0m-89 2h0m33 0h0m1 0h0m1 0h0m54 0h0m-155 1h0m67 0h0m35 0h0m-103 1h0m114 0h0m-1 1h0m2 0h0m43 0h0m-113 1h0m3 0h0m30 0h0m32 0h0m5 0h0m43 0h0m-109 1h0m26 0h0m3 0h0m33 0h0m7 0h0m-119 1h0m52 0h0m24 0h0m38 0h0m1 0h0m1 0h0m43 0h0m-76 1h0m41 0h0m-69 1h0m28 0h0m2 0h0m33 0h0m41 0h0m-159 1h0m86 0h0m36 0h0m-123 2h0m84 0h0m2 0h0m39 0h0m35 0h0m1 0h0m-233 1h0m133 0h0m26 0h0m1 0h0m-89 1h0m92 0h0m-42 1h0m15 0h0m3 0h0m27 0h0m1 0h0m66 0h0m-110 1h0m1 0h0m13 0h0m29 0h0m-40 1h0m39 0h0m-25 1h0m1 0h0m27 1h0m66 0h0m-227 1h0m53 0h0m109 0h0m-48 1h0m-52 1h0m54 0h0m8 0h0m1 0h0m1 0h0m42 0h0m-41 1h0m41 0h0m-39 1h0m17 0h0m-140 1h0m40 0h0m83 0h0m18 0h0m25 0h0m-166 1h0m108 0h0m30 0h0m2 0h0m27 0h0m55 0h0m-220 1h0m36 0h0m71 0h0m1 0h0m54 0h0m-128 1h0m107 0h0m78 0h0m-212 1h0m26 0h0m109 0h0m3 0h0m-132 1h0m10 0h0m91 0h0m5 0h0m51 0h0m2 0h0m-150 1h0m5 0h0m103 0h0m1 0h0m42 0h0m45 0h0m-193 1h0m126 1h0m25 0h0m41 0h0m-99 1h0m2 1h0m-35 1h0m52 0h0m17 0h0m1 0h0m24 0h0m-93 1h0m1 0h0m69 0h0m17 0h0m42 0h0m-127 1h0m1 0h0m66 0h0m-64 1h0m52 0h0m32 0h0m-82 1h0m51 0h0m30 0h0m-80 1h0m1 0h0m1 0h0m65 0h0m16 0h0m-80 1h0m35 0h0m15 0h0m-47 1h0m62 0h0m1 0h0m16 0h0m-79 1h0m64 0h0m-60 1h0m45 0h0m-44 1h0m62 0h0m14 0h0m-28 2h0m16 0h0m15 0h0m-74 1h0m60 0h0m1 0h0m3 0h0m10 0h0m1 0h0m-75 1h0m33 0h0m43 0h0m-31 1h0m1 0h0m16 0h0m-15 1h0m21 0h0m9 0h0m1 0h0m-71 1h0m62 0h0m-34 1h0m30 0h0m15 0h0m-13 1h0m5 0h0m9 0h0m-9 1h0m-4 1h0m6 0h0m8 0h0m15 0h0m-57 1h0m14 0h0m16 0h0m14 0h0m-43 1h0m14 0h0m41 0h0m-78 1h0m40 1h0m16 0h0m21 0h0m1 0h0m-77 1h0m24 0h0m16 0h0m38 0h0m-76 1h0m39 0h0m-38 1h0m1 1h0m54 0h0m16 0h0m3 0h0m-72 1h0m1 0h0m38 1h0m1 0h0m28 0h0m1 0h0m-28 1h0m26 0h0m-63 1h0m38 0h0m25 0h0m-25 1h0m19 0h0m-56 1h0m1 0h0m65 0h0m-65 1h0m38 0h0m21 0h0m-57 1h0m57 0h0m-35 1h0m16 0h0m-35 1h0m59 0h0m-58 2h0m21 0h0m36 0h0m-56 1h0m1 0h0m49 0h0m-48 1h0m21 0h0m1 1h0m-21 1h0m56 2h0m-11 1h0m-41 1h0m21 0h0m26 0h0m5 0h0m-29 1h0m30 0h0m-7 2h0m-47 1h0m47 0h0m-46 1h0m45 1h0m0 2h0m-1 2h0m1 0h0m-9 1h0m0 1h0m-40 1h0m47 1h0m1 0h0m-49 1h0m40 0h0m10 1h0m-51 1h0m1 0h0m40 0h0m10 0h0m14 0h0m-13 3h0m-56 1h0m-2 1h0m23 0h0m0 1h0m17 0h0m-17 1h0m16 0h0m-15 1h0m25 0h0m-53 1h0m44 0h0m1 0h0m0 1h0m3 0h0m-2 1h0m19 0h0m-35 1h0m-34 1h0m59 0h0m-22 1h0m1 1h0m1 0h0m21 0h0m-16 1h0m9 0h0m-58 1h0m49 0h0m14 0h0m3 0h0m-29 1h0m14 0h0m26 0h0m-41 1h0m1 0h0m14 0h0m9 0h0m5 0h0m1 0h0m-70 1h0m42 0h0m9 0h0m1 0h0m3 0h0m26 0h0m-83 1h0m1 0h0m54 0h0m18 0h0m-28 1h0m10 0h0m-1 1h0m2 0h0m2 0h0m16 0h0m-17 1h0m3 1h0m10 1h0m5 0h0m-14 2h0m10 0h0m8 0h0m-18 1h0m10 0h0m-9 1h0m18 0h0m-31 1h0m13 0h0m16 0h0m2 0h0m2 0h0m0 2h0m-16 1h0m-15 1h0m24 0h0m2 2h0m7 1h0m-14 2h0m15 0h0m8 0h0m-26 1h0m22 0h0m1 0h0m-11 1h0m1 0h0m13 0h0m-13 1h0m8 1h0m4 0h0m-17 1h0m-5 1h0m23 0h0m2 0h0m-36 1h0m17 0h0m7 0h0m7 0h0m-13 1h0m6 0h0m13 0h0m-37 1h0m1 2h0m19 0h0m-5 1h0m-13 1h0m33 0h0m5 0h0m-18 1h0m14 0h0m2 3h0m-32 2h0m33 0h0m4 0h0m-18 1h0m1 0h0m-5 3h0m-13 1h0m20 0h0m18 0h0m-18 1h0m23 0h0m1 0h0m-23 1h0m14 0h0m0 1h0m-19 1h0m0 1h0m1 1h0m0 1h0m6 0h0m-6 2h0m8 0h0m14 2h0m1 0h0m-35 1h0m14 1h0m1 0h0m0 1h0m21 1h0m-19 1h0m23 0h0m-39 1h0m0 1h0m25 0h0m11 0h0m4 1h0m-13 1h0m10 1h0m-8 2h0m-27 1h0m28 1h0m11 0h0m-3 1h0m3 0h0m-20 1h0m11 0h0m9 0h0m1 0h0m-21 1h0m1 0h0m17 0h0m-19 1h0m-15 1h0m1 0h0m16 0h0m18 1h0m-16 1h0m-18 1h0m1 0h0m34 0h0m2 0h0m-35 1h0m18 1h0m-17 1h0m17 0h0m15 0h0m-32 2h0m15 0h0m3 0h0m14 0h0m-14 1h0m14 0h0m-16 1h0m17 0h0m-16 1h0m1 0h0m1 0h0m14 1h0m0 1h0m-16 2h0m16 0h0m1 0h0m-32 1h0m16 1h0m16 0h0m-17 1h0m3 4h0m-2 1h0m1 0h0m16 0h0m-32 2h0m4 0h0m-4 1h0m36 0h0m-19 2h0m-17 1h0m19 0h0m14 0h0m-14 1h0m18 0h0m-18 1h0m-18 1h0m16 0h0m17 0h0m-33 1h0m5 1h0m11 0h0m-10 1h0m13 1h0m14 0h0m5 0h0m-4 1h0m-16 1h0m-11 2h0m13 0h0m-19 1h0m18 3h0m-17 2h0m19 0h0m-19 2h0m19 2h0m14 1h0m-14 1h0m14 0h0m1 0h0m0 1h0m-15 1h0m-11 1h0m1 1h0m31 0h0m-30 2h0m25 0h0m-34 1h0m35 0h0m-35 1h0m40 0h0m-20 1h0m15 1h0m5 1h0m-30 2h0m1 1h0m26 0h0m4 1h0m-40 1h0m1 0h0m0 1h0m0 1h0m9 1h0m1 0h0" stroke="#a07050" stroke-width="1.0" stroke-linecap="square"/>
<path d="M1005 290h0m6 1h0m-1 1h0m1 0h0m2 0h0m5 2h0m7 3h0m1 0h0m1 0h0m1 0h0m6 2h0m3 2h0m3 0h0m-2 1h0m3 0h0m-72 1h0m1 0h0m-2 1h0m77 0h0m1 1h0m4 1h0m0 1h0m-86 1h0m90 0h0m-92 1h0m95 0h0m6 4h0m1 0h0m-107 1h0m109 0h0m1 0h0m-113 4h0m-1 1h0m123 0h0m-103 3h0m14 0h0m95 0h0m-94 1h0m26 0h0m69 0h0m1 0h0m-109 3h0m15 0h0m0 1h0m27 0h0m-69 1h0m98 0h0m-69 1h0m14 0h0m56 0h0m-99 1h0m73 0h0m74 0h0m-73 1h0m73 0h0m-117 1h0m1 0h0m15 1h0m54 0h0m-99 1h0m31 0h0m45 0h0m74 0h0m-104 1h0m53 0h0m51 0h0m-116 2h0m-35 1h0m37 1h0m1 0h0m1 0h0m117 0h0m-117 1h0m1 0h0m1 0h0m41 0h0m20 0h0m55 0h0m-116 1h0m12 0h0m-11 1h0m1 0h0m42 0h0m75 0h0m-157 1h0m1 0h0m52 0h0m29 0h0m1 0h0m18 0h0m58 1h0m-116 1h0m13 0h0m102 0h0m-153 1h0m1 0h0m1 0h0m51 0h0m27 0h0m1 1h0m-76 1h0m1 0h0m93 0h0m0 1h0m60 0h0m1 1h0m-145 1h0m2 1h0m31 0h0m13 0h0m-43 1h0m1 0h0m1 0h0m30 0h0m-29 1h0m29 0h0m36 0h0m17 0h0m-17 1h0m-34 1h0m12 0h0m101 0h0m-77 1h0m17 0h0m59 0h0m-75 1h0m76 0h0m-76 1h0m77 0h0m0 2h0m-131 1h0m22 0h0m35 0h0m16 0h0m-51 1h0m35 0h0m2 1h0m21 2h0m-74 1h0m23 2h0m-20 1h0m128 0h0m-107 1h0m34 0h0m29 0h0m1 0h0m-31 1h0m-26 1h0m60 0h0m2 1h0m-67 1h0m70 0h0m-36 1h0m37 0h0m2 0h0m37 0h0m-37 1h0m37 1h0m-108 1h0m7 0h0m1 0h0m-7 1h0m40 0h0m-31 2h0m1 0h0m99 0h0m-63 1h0m2 0h0m1 1h0m-67 1h0m21 0h0m1 0h0m106 0h0m1 0h0m-55 1h0m55 1h0m-128 1h0m23 0h0m8 0h0m47 0h0m1 0h0m3 0h0m-81 2h0m26 0h0m59 0h0m1 1h0m2 0h0m-58 1h0m7 0h0m-4 2h0m-31 1h0m34 0h0m11 0h0m1 0h0m-8 1h0m15 1h0m-52 1h0m1 0h0m38 0h0m2 0h0m-40 1h0m42 0h0m87 0h0m-129 1h0m44 0h0m-43 1h0m1 0h0m42 0h0m13 1h0m9 0h0m1 0h0m-61 1h0m42 0h0m2 0h0m8 0h0m3 0h0m7 0h0m-16 1h0m8 0h0m12 0h0m-10 1h0m1 0h0m3 0h0m9 0h0m57 1h0m-63 1h0m-50 1h0m1 0h0m1 0h0m51 0h0m-10 1h0m73 0h0m-71 1h0m18 2h0m-12 1h0m12 0h0m3 0h0m-50 1h0m2 0h0m34 0h0m9 0h0m6 0h0m53 0h0m-100 1h0m19 0h0m3 0h0m2 0h0m-69 1h0m57 0h0m4 0h0m1 0h0m1 0h0m23 0h0m8 0h0m1 0h0m1 0h0m1 0h0m-42 1h0m4 0h0m3 0h0m25 0h0m10 0h0m2 1h0m-8 1h0m9 0h0m3 1h0m50 2h0m-56 1h0m-34 1h0m7 0h0m-5 1h0m7 0h0m30 0h0m-33 1h0m-26 1h0m27 0h0m42 0h0m2 0h0m-70 1h0m2 0h0m25 0h0m1 0h0m0 1h0m82 0h0m-105 1h0m2 0h0m104 0h0m-104 1h0m1 0h0m1 1h0m102 0h0m-101 1h0m4 1h0m22 0h0m2 0h0m-88 1h0m62 0h0m1 0h0m26 0h0m-89 1h0m162 0h0m-232 1h0m118 0h0m1 0h0m1 0h0m16 0h0m2 0h0m-16 1h0m14 0h0m-22 1h0m10 0h0m17 0h0m1 0h0m-140 1h0m140 0h0m28 0h0m-165 1h0m140 0h0m26 0h0m-166 1h0m124 0h0m18 0h0m23 0h0m1 0h0m62 0h0m-111 1h0m-115 1h0m1 0h0m164 0h0m3 0h0m59 0h0m-179 1h0m92 0h0m-95 1h0m182 0h0m-107 1h0m8 0h0m19 0h0m20 0h0m4 0h0m-60 1h0m1 0h0m60 0h0m-165 1h0m108 0h0m7 0h0m1 1h0m24 0h0m29 0h0m-167 1h0m4 0h0m2 0h0m110 0h0m26 0h0m-141 1h0m15 0h0m14 0h0m81 0h0m5 0h0m-100 1h0m11 0h0m-3 1h0m89 0h0m2 0h0m15 0h0m15 0h0m1 0h0m1 0h0m1 0h0m-32 1h0m6 0h0m23 0h0m21 0h0m-32 1h0m1 0h0m13 0h0m20 0h0m1 0h0m6 0h0m-27 1h0m1 0h0m20 0h0m-32 1h0m39 0h0m-91 1h0m1 0h0m51 0h0m2 0h0m39 0h0m-27 1h0m20 0h0m-46 1h0m87 0h0m-120 1h0m34 0h0m1 0h0m15 0h0m33 1h0m-45 1h0m14 0h0m17 0h0m14 0h0m36 0h0m-49 1h0m-15 1h0m15 0h0m1 0h0m48 0h0m-108 2h0m1 0h0m32 0h0m11 0h0m17 0h0m-58 1h0m33 1h0m12 0h0m-42 1h0m99 0h0m-98 1h0m59 0h0m-27 1h0m32 0h0m1 0h0m-33 1h0m28 0h0m-13 1h0m15 0h0m14 0h0m-70 1h0m28 0h0m43 0h0m-70 1h0m27 0h0m-25 1h0m41 0h0m-13 1h0m15 0h0m15 0h0m14 0h0m14 0h0m1 0h0m-83 1h0m55 0h0m4 0h0m9 0h0m-66 1h0m1 1h0m54 0h0m-53 1h0m23 0h0m31 0h0m4 0h0m21 0h0m-78 1h0m54 0h0m4 0h0m-57 1h0m1 0h0m23 0h0m30 0h0m1 0h0m3 0h0m-18 1h0m1 1h0m31 0h0m-69 1h0m23 0h0m31 0h0m-14 1h0m20 1h0m12 0h0m-68 1h0m38 0h0m30 0h0m-67 1h0m21 0h0m15 0h0m-35 1h0m37 0h0m21 0h0m-36 1h0m-21 1h0m22 0h0m1 1h0m40 0h0m-39 1h0m1 0h0m32 0h0m-53 1h0m36 0h0m-36 1h0m36 0h0m-32 2h0m0 2h0m53 1h0m4 2h0m-52 1h0m1 0h0m52 2h0m-7 1h0m0 1h0m-7 1h0m15 0h0m1 0h0m-17 1h0m-40 1h0m40 0h0m7 0h0m0 1h0m0 1h0m0 1h0m11 0h0m-59 1h0m40 1h0m19 0h0m1 3h0m1 1h0m-24 1h0m12 0h0m-11 3h0m-9 2h0m10 1h0m-17 1h0m8 0h0m21 0h0m-63 1h0m35 1h0m17 0h0m-53 1h0m47 0h0m-17 1h0m7 0h0m17 0h0m12 0h0m-12 1h0m-3 1h0m4 0h0m-60 1h0m40 1h0m4 0h0m9 0h0m4 0h0m-16 1h0m31 0h0m-40 1h0m29 0h0m12 0h0m-31 1h0m13 0h0m18 0h0m-81 2h0m50 0h0m-8 1h0m8 0h0m3 0h0m12 0h0m0 1h0m6 0h0m-28 1h0m10 1h0m2 0h0m12 0h0m-23 1h0m12 0h0m11 0h0m17 0h0m-39 1h0m29 0h0m10 0h0m-26 2h0m17 0h0m-16 1h0m18 0h0m-18 1h0m1 0h0m15 0h0m-15 1h0m11 0h0m8 1h0m1 0h0m-19 1h0m1 0h0m10 0h0m6 0h0m-5 2h0m6 0h0m4 0h0m-33 1h0m15 0h0m16 0h0m8 0h0m-8 1h0m3 0h0m6 0h0m-23 1h0m9 0h0m6 0h0m8 0h0m-4 1h0m5 0h0m0 1h0m-14 1h0m15 1h0m-25 1h0m1 1h0m4 0h0m21 1h0m-37 2h0m12 0h0m7 0h0m14 0h0m6 0h0m-38 1h0m12 0h0m20 0h0m-13 2h0m19 0h0m-18 1h0m20 0h0m0 1h0m-25 1h0m7 0h0m1 3h0m22 1h0m-27 1h0m-13 1h0m41 0h0m-7 1h0m-33 1h0m1 0h0m43 1h0m-30 1h0m-12 1h0m20 0h0m-20 1h0m1 0h0m19 0h0m19 1h0m-3 1h0m-33 2h0m0 1h0m13 1h0m3 1h0m-1 1h0m6 0h0m19 1h0m-23 1h0m20 0h0m-35 1h0m13 0h0m-13 1h0m14 1h0m0 1h0m2 0h0m20 0h0m-21 1h0m10 0h0m12 0h0m-11 1h0m-8 1h0m8 0h0m-9 1h0m10 0h0m-25 1h0m17 1h0m11 1h0m8 0h0m4 0h0m-21 1h0m18 0h0m-17 1h0m0 1h0m17 2h0m-6 1h0m10 2h0m-36 1h0m29 0h0m5 0h0m-34 1h0m29 0h0m2 1h0m7 0h0m-36 1h0m31 0h0m-31 1h0m29 0h0m4 0h0m0 2h0m-33 2h0m1 0h0m0 1h0m16 0h0m-16 1h0m19 0h0m14 0h0m-14 1h0m-17 1h0m15 0h0m0 2h0m-14 2h0m17 1h0m18 1h0m-36 1h0m2 0h0m30 1h0m1 0h0m-33 1h0m33 0h0m-32 1h0m2 0h0m14 0h0m2 0h0m-2 1h0m20 0h0m-17 1h0m-19 1h0m32 0h0m-14 1h0m-1 1h0m2 1h0m18 0h0m0 1h0m-4 1h0m0 1h0m-13 1h0m-19 2h0m5 0h0m14 0h0m-13 1h0m1 2h0m-6 1h0m19 1h0m14 0h0m4 1h0m-30 1h0m13 1h0m13 0h0m-33 1h0m19 1h0m20 1h0m-19 1h0m14 0h0m-33 1h0m18 0h0m15 1h0m-33 1h0m39 1h0m-39 1h0m8 3h0m27 2h0m-25 1h0m30 0h0m-39 1h0m39 1h0m-38 1h0m35 1h0m-35 1h0m0 1h0m39 0h0m-4 1h0m-35 1h0m10 1h0m30 0h0m-39 2h0m36 0h0m3 0h0m-3 2h0m0 1h0" stroke="#806048" stroke-width="1.0" stroke-linecap="square"/>
<path d="M1036 461h0m1 0h0m2 1h0m3 1h0m1 0h0m11 7h0m1 1h0m1 0h0m2 2h0m1 0h0m0 1h0m2 0h0m2 1h0m1 1h0m5 3h0m5 3h0m5 5h0m2 2h0m4 3h0m0 1h0m1 0h0m3 3h0m4 4h0m5 6h0m1 3h0m-1 6h0m-1 2h0m-1 6h0m-7 6h0m-5 5h0" stroke="#f8f0e0" stroke-width="1.0" stroke-linecap="square"/>
<path d="M1035 460h0m2 0h0m3 2h0m0 1h0m3 0h0m-1 1h0m3 2h0m4 1h0m9 6h0m3 1h0m5 3h0m1 1h0m10 7h0m10 10h0m2 1h0m2 2h0m6 5h0m0 1h0m2 1h0m1 3h0m0 3h0m-2 1h0m-1 6h0m-1 4h0m-2 3h0m-4 2h0m-5 5h0m-1 1h0m-1 1h0m-6 5h0m-4 3h0m2 0h0m-5 4h0" stroke="#f0e0c8" stroke-width="1.0" stroke-linecap="square"/>
<path d="M1208 562h0m-76 5h0m-30 4h0m28 3h0m-18 5h0m50 4h0m55 1h0m7 1h0m-37 6h0m-41 24h0m-7 20h0m56 0h0m29 4h0m-54 1h0m-57 11h0m110 1h0m-66 4h0m-20 1h0m14 5h0m6 8h0m10 10h0m17 5h0m-48 5h0m8 0h0m64 0h0m-24 2h0" stroke="#c8a880" stroke-width="1.1" stroke-linecap="square"/>
<path d="M1115 302h0m-6 28h0m40 8h0m-81 6h0m-128 4h0m251 4h0m-179 17h0m79 6h0m-157 4h0m260 4h0m-84 18h0m46 13h0m-15 1h0m-75 4h0m16 1h0m125 4h0m-16 3h0m-55 11h0m19 2h0m-27 1h0m-129 13h0m-48 8h0m120 0h0m-22 3h0m121 6h0m-226 2h0m159 5h0m-47 3h0m163 0h0m-7 1h0m-30 5h0m-15 1h0m-154 3h0m106 1h0m-27 1h0m-73 1h0m-28 8h0m-40 1h0m88 2h0m169 14h0m-106 1h0m-86 3h0m-9 2h0m82 15h0m123 1h0m-263 2h0m273 1h0m-268 4h0m175 5h0m-15 3h0m-148 7h0m199 0h0m-41 3h0m97 1h0m-223 1h0m229 0h0m-133 1h0m117 0h0m-107 2h0m24 6h0m-94 8h0m-6 5h0m169 1h0m-87 2h0m-84 1h0m-16 2h0m95 7h0m-139 2h0m201 0h0m-45 1h0m-160 4h0m190 4h0m-119 2h0m121 1h0m2 0h0m8 2h0m2 1h0m-32 1h0m32 0h0m-152 2h0m85 3h0m-165 1h0m126 1h0m116 1h0m17 1h0m-213 2h0m230 1h0m1 1h0m-268 1h0m219 2h0m-73 5h0m40 1h0m64 2h0m7 0h0m-88 1h0m21 0h0m89 0h0m-52 1h0m67 0h0m-82 2h0m43 0h0m-132 2h0m126 1h0m20 0h0m7 1h0m3 0h0m-40 3h0m-53 1h0m-29 4h0m97 0h0m-72 1h0m65 2h0m-71 2h0m12 0h0m-195 1h0m48 0h0m27 2h0m122 0h0m44 3h0m-11 1h0m-37 1h0m47 5h0m-35 1h0m-34 3h0m4 4h0m35 5h0m27 2h0m0 1h0" stroke="#203040" stroke-width="1.1" stroke-linecap="square"/>
<path d="M949 304h0m15 1h0m10 2h0m141 4h0m11 13h0m-188 18h0m42 6h0m185 2h0m58 1h0m13 9h0m-145 6h0m-31 3h0m37 5h0m13 0h0m55 4h0m21 1h0m-201 16h0m153 2h0m28 6h0m-189 5h0m-4 5h0m101 0h0m94 0h0m21 19h0m-226 1h0m4 7h0m-28 1h0m84 5h0m134 1h0m8 6h0m-198 4h0m97 9h0m172 1h0m-289 6h0m247 10h0m19 4h0m-100 14h0m-104 3h0m13 2h0m1 0h0m25 5h0m-94 10h0m277 1h0m-51 5h0m50 1h0m-176 8h0m-67 6h0m98 4h0m-75 13h0m149 4h0m-23 5h0m79 4h0m-23 1h0m-245 2h0m216 2h0m2 0h0m0 1h0m35 0h0m-13 4h0m26 0h0m-44 2h0m-53 2h0m41 0h0m-155 3h0m106 2h0m-112 2h0m188 0h0m-28 6h0m-51 3h0m71 0h0m49 1h0m-15 3h0m-56 1h0m-176 4h0m252 4h0m-299 1h0m268 0h0m-211 2h0m150 1h0m-72 1h0m120 0h0m-27 1h0m55 0h0m-18 5h0m-141 3h0m29 0h0m145 6h0m-107 8h0m89 2h0m-69 1h0m-169 2h0m186 6h0m-5 6h0m76 8h0m-10 3h0m4 0h0m-112 4h0m58 2h0m14 1h0m25 2h0m-39 3h0m-172 3h0m210 0h0m-153 3h0m175 1h0m-117 1h0m68 0h0m52 1h0m-100 5h0" stroke="#a08060" stroke-width="1.1" stroke-linecap="square"/>
<path d="M1166 563h0m-9 2h0m36 2h0m-14 1h0m1 8h0m-56 4h0m52 3h0m17 12h0m-47 1h0m44 2h0m-57 15h0m0 14h0m60 0h0m-48 9h0m71 2h0m-87 1h0m80 3h0m-96 2h0m85 17h0m-3 4h0m28 5h0m-92 15h0m70 11h0" stroke="#e0d0b8" stroke-width="1.1" stroke-linecap="square"/>
<path d="M973 315h0m63 2h0m108 2h0m42 5h0m-156 10h0m-25 1h0m-12 11h0m187 6h0m-154 1h0m110 14h0m-61 1h0m74 2h0m-180 15h0m51 0h0m185 6h0m-250 9h0m69 2h0m-32 8h0m-4 2h0m15 1h0m18 0h0m38 3h0m-65 1h0m56 2h0m32 9h0m50 1h0m57 11h0m45 0h0m-253 19h0m-14 4h0m146 1h0m44 1h0m-165 2h0m23 2h0m134 1h0m-112 8h0m-72 3h0m259 15h0m-148 5h0m163 25h0m-67 6h0m-190 6h0m164 3h0m-99 5h0m79 2h0m-42 3h0m-147 4h0m253 12h0m-126 4h0m-28 2h0m192 0h0m-219 9h0m161 4h0m-88 2h0m9 0h0m60 11h0m-187 6h0m-5 6h0m61 1h0m-45 2h0m49 0h0m-87 1h0m209 2h0m-62 1h0m-86 2h0m239 9h0m-226 5h0m1 2h0m54 5h0m-85 2h0m189 16h0m-231 1h0m185 0h0m77 0h0m31 2h0m-278 1h0m125 2h0m142 6h0m-260 1h0m131 1h0m39 7h0" stroke="#c09070" stroke-width="1.1" stroke-linecap="square"/>
<path d="M1201 316h0m-212 2h0m129 1h0m-165 4h0m106 12h0m-119 9h0m74 1h0m-55 2h0m55 2h0m109 5h0m-183 1h0m249 9h0m-198 4h0m8 1h0m58 0h0m-53 12h0m-58 8h0m81 2h0m-10 1h0m-36 18h0m252 11h0m-251 2h0m71 1h0m2 6h0m53 7h0m58 11h0m52 2h0m-254 5h0m237 2h0m6 1h0m-24 2h0m26 1h0m-249 10h0m210 2h0m-85 4h0m31 18h0m103 0h0m-180 1h0m-89 6h0m80 9h0m-63 1h0m119 1h0m90 1h0m-106 1h0m-15 4h0m48 9h0m-12 23h0m-161 1h0m57 2h0m33 5h0m-80 1h0m28 7h0m99 0h0m-133 3h0m111 1h0m-28 4h0m-49 2h0m149 6h0m113 0h0m-112 1h0m-128 2h0m232 2h0m-291 16h0m84 13h0m179 1h0m-133 12h0m53 1h0m-36 9h0m-90 1h0m160 1h0m63 5h0m-89 1h0m-64 7h0m155 3h0m-220 1h0m142 2h0m21 2h0m-160 5h0m171 0h0m6 3h0m-184 2h0m31 4h0m176 5h0" stroke="#d8c8b0" stroke-width="1.1" stroke-linecap="square"/>
<path d="M986 300h0m-39 3h0m283 10h0m-136 20h0m-35 1h0m85 1h0m77 19h0m-282 5h0m160 6h0m-76 2h0m145 4h0m-230 6h0m218 5h0m47 1h0m25 1h0m-295 5h0m84 0h0m-74 1h0m79 1h0m156 19h0m-104 4h0m-10 1h0m-42 3h0m76 3h0m11 0h0m22 10h0m59 12h0m-172 3h0m17 0h0m138 1h0m-209 3h0m125 5h0m-146 3h0m145 0h0m-39 1h0m68 3h0m-48 1h0m-84 1h0m239 4h0m-278 3h0m101 14h0m21 9h0m-65 2h0m214 1h0m-263 3h0m244 0h0m-28 1h0m-43 5h0m-35 4h0m-110 8h0m-36 1h0m204 8h0m66 0h0m2 3h0m-41 5h0m-90 8h0m140 0h0m-173 4h0m144 4h0m-50 3h0m-80 6h0m1 3h0m158 1h0m-276 3h0m232 16h0m-156 2h0m-66 1h0m276 3h0m-234 8h0m85 0h0m-149 6h0m194 1h0m36 7h0m29 12h0m-12 1h0m-228 1h0m107 0h0m110 0h0m-78 3h0m-154 8h0m213 8h0m-92 2h0m-76 1h0m-13 12h0m93 10h0m28 2h0m-146 6h0m96 7h0m104 6h0m-130 3h0" stroke="#e8e8f0" stroke-width="1.1" stroke-linecap="square"/>
<path d="M1031 304h0m0 1h0m-1 1h0m5 0h0m-6 3h0m4 0h0m4 0h0m-2 1h0m-4 1h0m-1 2h0m2 0h0m7 0h0m36 16h0m3 0h0m0 1h0m-4 1h0m-113 1h0m114 0h0m5 0h0m-117 1h0m112 0h0m2 0h0m2 0h0m1 0h0m-121 1h0m116 0h0m2 0h0m-118 1h0m4 0h0m-3 1h0m185 28h0m0 1h0m-98 1h0m99 1h0m-1 1h0m1 0h0m-102 1h0" stroke="#4a4048" stroke-width="1.4" stroke-linecap="square"/>
<path d="M1030 305h0m3 0h0m2 0h0m0 1h0m-5 1h0m6 0h0m0 1h0m-4 2h0m3 0h0m2 0h0m3 1h0m-11 1h0m6 0h0m1 0h0m47 16h0m1 0h0m-5 1h0m3 1h0m-10 1h0m5 0h0m5 0h0m-119 1h0m118 0h0m-117 1h0m116 0h0m-120 1h0m4 0h0m113 0h0m-2 1h0m-113 1h0m3 0h0m0 1h0m176 26h0m1 1h0m-1 1h0m5 0h0m-3 1h0m1 0h0m-3 1h0m-96 1h0m-1 3h0m3 2h0m0 1h0" stroke="#201820" stroke-width="1.4" stroke-linecap="square"/>
<path d="M1032 307h0m0 1h0m5 0h0m-9 1h0m7 0h0m-4 1h0m5 0h0m-1 1h0m4 0h0m-10 1h0m6 0h0m44 16h0m-118 1h0m114 0h0m3 0h0m2 0h0m-119 1h0m115 0h0m5 0h0m-121 1h0m3 0h0m2 0h0m115 0h0m-121 3h0m2 0h0m4 0h0m108 0h0m1 0h0m-114 3h0m182 26h0m0 1h0m3 0h0m0 1h0m-100 3h0m2 0h0m95 1h0m1 0h0m-98 1h0m2 0h0m-2 3h0m3 0h0" stroke="#6a5a58" stroke-width="1.4" stroke-linecap="square"/>
<path d="M1110 361h0m2 0h0m-3 2h0m1 0h0m2 0h0m2 0h0m-3 1h0m-1 1h0m4 0h0m5 0h0m-8 1h0m2 0h0m1 0h0m3 0h0m-4 1h0m4 0h0m1 0h0m1 0h0m-7 1h0m4 0h0m-3 1h0m0 2h0m4 0h0m-7 1h0m2 0h0m5 1h0" stroke="#6a3030" stroke-width="1.4" stroke-linecap="square"/>
<path d="M1107 361h0m5 0h0m-6 1h0m1 0h0m6 0h0m-2 1h0m4 0h0m0 1h0m-1 1h0m2 0h0m-7 1h0m4 0h0m1 1h0m1 0h0m0 1h0m3 0h0m-7 1h0m2 0h0m1 0h0m1 0h0m1 1h0m2 1h0m-8 1h0m2 0h0m1 1h0m3 0h0m1 0h0m-4 1h0m1 0h0" stroke="#302028" stroke-width="1.4" stroke-linecap="square"/>
<path d="M1111 360h0m3 0h0m-6 1h0m2 0h0m-3 1h0m1 0h0m2 1h0m4 0h0m1 0h0m-6 2h0m3 0h0m1 0h0m1 0h0m3 0h0m-8 1h0m5 0h0m1 0h0m2 0h0m-1 1h0m1 0h0m-7 1h0m1 0h0m7 0h0m-8 2h0m5 0h0m1 1h0m-5 1h0" stroke="#803828" stroke-width="1.4" stroke-linecap="square"/>
<path d="M1001 325h0m7 3h0m-2 1h0m2 0h0m-7 1h0m3 0h0m1 0h0m4 0h0m2 0h0m-13 1h0m7 0h0m5 0h0" stroke="#7a7a40" stroke-width="1.4" stroke-linecap="square"/>
<path d="M1003 326h0m-2 1h0m2 0h0m1 1h0m3 0h0m2 0h0m1 1h0m-8 1h0m2 0h0m6 0h0m-11 2h0m2 0h0m3 0h0m2 0h0m1 0h0m1 0h0m1 0h0" stroke="#4a5028" stroke-width="1.4" stroke-linecap="square"/>
<path d="M1002 326h0m4 1h0m1 0h0m-2 2h0m2 0h0m-8 1h0m2 0h0m2 0h0m5 0h0m2 0h0m-5 1h0m-4 1h0m4 0h0m5 0h0m1 0h0m-8 1h0m1 0h0" stroke="#3a3a28" stroke-width="1.4" stroke-linecap="square"/>
<path d="M1005 327h0m-3 1h0m4 0h0m1 0h0m-8 1h0m1 0h0m10 0h0m0 2h0m-11 1h0m1 0h0m2 0h0" stroke="#6a7038" stroke-width="1.4" stroke-linecap="square"/>
<path d="M1002 325h0m5 2h0m-1 1h0m0 2h0m3 0h0m2 0h0m-9 1h0m4 0h0m5 0h0m-6 1h0m2 0h0" stroke="#5a6030" stroke-width="1.4" stroke-linecap="square"/>
<path d="M977 312h0m-1 4h0m-3 1h0m5 0h0m-7 1h0m7 0h0m56 17h0m-4 1h0m5 2h0m-2 1h0m-3 2h0m1 0h0m3 0h0m1 0h0m-5 2h0m1 1h0" stroke="#c8c4c0" stroke-width="1.4" stroke-linecap="square"/>
<path d="M973 312h0m2 0h0m1 3h0m-4 1h0m7 0h0m-3 1h0m-4 2h0m3 0h0m1 0h0m-2 1h0m60 15h0m-1 1h0m-2 1h0m-1 2h0m0 1h0m8 1h0m-5 2h0m1 1h0" stroke="#686460" stroke-width="1.4" stroke-linecap="square"/>
<path d="M974 312h0m1 0h0m-3 2h0m2 1h0m3 0h0m0 1h0m-2 1h0m57 20h0m2 2h0m1 0h0m-4 2h0m4 1h0m1 0h0m-3 1h0m-2 1h0" stroke="#d8d4d0" stroke-width="1.4" stroke-linecap="square"/>
<path d="M972 312h0m1 0h0m1 1h0m2 0h0m-1 2h0m1 1h0m-3 1h0m1 1h0m2 0h0m2 0h0m-4 1h0m2 0h0m56 17h0m3 0h0m0 1h0m-4 2h0m-1 2h0m2 0h0m1 1h0m5 0h0m0 1h0" stroke="#a8a8a8" stroke-width="1.4" stroke-linecap="square"/>
<path d="M973 314h0m3 2h0m3 0h0m-1 1h0m1 0h0m-2 1h0m1 0h0m-6 1h0m3 0h0m1 1h0m55 14h0m1 3h0m-2 2h0m1 0h0m0 1h0m2 0h0m4 2h0m2 1h0m-4 2h0m-2 1h0" stroke="#888480" stroke-width="1.4" stroke-linecap="square"/>
<path d="M993 302h0m2 0h0m-2 1h0m2 0h0m1 0h0m-8 1h0m5 0h0m7 0h0m1 0h0m-14 1h0m8 0h0m2 0h0m-10 1h0m7 0h0m4 0h0m-10 1h0m4 0h0m4 0h0m2 0h0" stroke="#dcd8ec" stroke-width="1.4" stroke-linecap="square"/>
<path d="M988 302h0m7 0h0m1 0h0m4 0h0m-4 1h0m-8 1h0m13 0h0m-11 1h0m9 0h0m-8 1h0m1 0h0m5 0h0m2 0h0m-7 2h0" stroke="#b0aac8" stroke-width="1.4" stroke-linecap="square"/>
<path d="M993 302h0m3 0h0m-7 1h0m5 1h0m3 0h0m-1 1h0m4 1h0m-2 1h0m-7 1h0m4 0h0" stroke="#c0bcd8" stroke-width="1.4" stroke-linecap="square"/>
<path d="M995 301h0m3 0h0m1 1h0m-12 1h0m6 0h0m4 0h0m-7 2h0m2 0h0m1 0h0m2 1h0m5 0h0m-13 1h0" stroke="#4a4860" stroke-width="1.4" stroke-linecap="square"/>
<path d="M994 300h0m-1 2h0m7 1h0m-3 2h0m2 0h0m-12 1h0m5 0h0m7 0h0m-9 1h0m7 0h0m1 0h0" stroke="#7a7898" stroke-width="1.4" stroke-linecap="square"/>
<path d="M997 301h0m-8 1h0m-2 3h0m3 0h0m9 0h0m-12 1h0m4 0h0m-2 1h0m6 0h0m2 0h0m-7 1h0" stroke="#9a98b8" stroke-width="1.4" stroke-linecap="square"/>
<path d="M996 301h0m2 1h0m1 0h0m-11 1h0m-1 1h0m4 1h0m4 0h0" stroke="#e8e8f0" stroke-width="1.4" stroke-linecap="square"/>
<text x="688.6" y="163" font-size="10.2" font-weight="bold" fill="#fff" stroke="#203040" stroke-width="0.4" paint-order="stroke" font-family="Liberation Sans">T5</text>
<text x="692" y="259.5" font-size="10.2" font-weight="bold" fill="#fff" stroke="#203040" stroke-width="0.4" paint-order="stroke" font-family="Liberation Sans">T30</text>
<text x="771" y="259.5" font-size="10.2" font-weight="bold" fill="#fff" stroke="#203040" stroke-width="0.4" paint-order="stroke" font-family="Liberation Sans">T2</text>
<text x="771" y="312" font-size="10.2" font-weight="bold" fill="#fff" stroke="#203040" stroke-width="0.4" paint-order="stroke" font-family="Liberation Sans">T18</text>
<text x="838.6" y="206" font-size="10.2" font-weight="bold" fill="#fff" stroke="#203040" stroke-width="0.4" paint-order="stroke" font-family="Liberation Sans">T7</text>
<text x="658.6" y="234" font-size="10.2" font-weight="bold" fill="#fff" stroke="#203040" stroke-width="0.4" paint-order="stroke" font-family="Liberation Sans">T4</text>
<text x="803" y="157" font-size="10.2" font-weight="bold" fill="#fff" stroke="#203040" stroke-width="0.4" paint-order="stroke" font-family="Liberation Sans">6</text>
<text x="773" y="206" font-size="10.2" font-weight="bold" fill="#fff" stroke="#203040" stroke-width="0.4" paint-order="stroke" font-family="Liberation Sans">T3</text>
<text x="947" y="294" font-size="10.2" font-weight="bold" fill="#fff" stroke="#203040" stroke-width="0.4" paint-order="stroke" font-family="Liberation Sans">T891</text>
<text x="773" y="420.5" font-size="10.2" font-weight="bold" fill="#fff" stroke="#203040" stroke-width="0.4" paint-order="stroke" font-family="Liberation Sans">T18</text>
<text x="756" y="521" font-size="10.2" font-weight="bold" fill="#fff" stroke="#203040" stroke-width="0.4" paint-order="stroke" font-family="Liberation Sans">T41</text>
<text x="759.7" y="567.5" font-size="10.2" font-weight="bold" fill="#fff" stroke="#203040" stroke-width="0.4" paint-order="stroke" font-family="Liberation Sans">T161</text>
<text x="677.3" y="589" font-size="10.2" font-weight="bold" fill="#fff" stroke="#203040" stroke-width="0.4" paint-order="stroke" font-family="Liberation Sans">T171</text>
<text x="775.4" y="604.8" font-size="10.2" font-weight="bold" fill="#fff" stroke="#203040" stroke-width="0.4" paint-order="stroke" font-family="Liberation Sans">81</text></svg></div>
<div id="vsb2" class="a"></div>
<div class="a" style="left:222px;top:52px;width:1261px;height:2px;background:#f8f8f8"></div>
<div class="a" style="left:223px;top:54px;width:1255px;height:1.2px;background:#04203a;opacity:0.8"></div>
<div id="sbar" class="a"></div>
<div id="status" class="a"><div style="top:0.6px;transform:scaleX(0.92)">Use rf compensation f:1.000000 soll:1883470 n:31</div><div style="top:20px;transform:scaleX(0.903)">8908 pixel removed. 4983 pixel 189 lines displayed</div></div>
<svg id="ovl" class="a" width="1483" height="800" viewBox="0 0 1483 800">
<defs>
<linearGradient id="foldG" x1="0" y1="0" x2="0" y2="1"><stop offset="0" stop-color="#fbf38a"/><stop offset="1" stop-color="#eccc10"/></linearGradient>
<linearGradient id="purpG" x1="0.1" y1="0.1" x2="0.9" y2="0.9"><stop offset="0" stop-color="#e0c0ec"/><stop offset="0.45" stop-color="#a878be"/><stop offset="1" stop-color="#6a3888"/></linearGradient>
<linearGradient id="triG" x1="0" y1="0" x2="0" y2="1"><stop offset="0.1" stop-color="#8a5aa0"/><stop offset="0.5" stop-color="#dcc4e4"/><stop offset="0.9" stop-color="#80509a"/></linearGradient>
<linearGradient id="triG2" x1="0" y1="0" x2="0" y2="1"><stop offset="0.1" stop-color="#8a5aa0"/><stop offset="0.5" stop-color="#dcc4e4"/><stop offset="0.9" stop-color="#80509a"/></linearGradient>
<radialGradient id="globeG" cx="0.55" cy="0.35" r="0.7"><stop offset="0" stop-color="#8cc8ff"/><stop offset="0.55" stop-color="#2a78d0"/><stop offset="1" stop-color="#0a3a88"/></radialGradient>
<radialGradient id="sphG" cx="0.35" cy="0.3" r="0.8"><stop offset="0" stop-color="#f0f0f0"/><stop offset="1" stop-color="#777"/></radialGradient>
<radialGradient id="sphG2" cx="0.35" cy="0.3" r="0.8"><stop offset="0" stop-color="#eee"/><stop offset="1" stop-color="#8a8a8a"/></radialGradient>
<linearGradient id="candyG" x1="0" y1="0" x2="1" y2="1"><stop offset="0" stop-color="#e040e8"/><stop offset="1" stop-color="#8a18a0"/></linearGradient>
<linearGradient id="arrG" x1="0" y1="0" x2="1" y2="1"><stop offset="0" stop-color="#e8d8ec"/><stop offset="1" stop-color="#9a7aa8"/></linearGradient>
<linearGradient id="cubeX" x1="0" y1="0" x2="1" y2="1"><stop offset="0" stop-color="#e05050"/><stop offset="1" stop-color="#d83838"/></linearGradient>
<linearGradient id="eyeG" x1="0" y1="0" x2="0" y2="1"><stop offset="0" stop-color="#fff36a"/><stop offset="1" stop-color="#f0dc30"/></linearGradient>
<radialGradient id="irisG" cx="0.5" cy="0.5" r="0.5"><stop offset="0" stop-color="#1a3a70"/><stop offset="0.6" stop-color="#1a78d0"/><stop offset="1" stop-color="#0a3060"/></radialGradient>
<linearGradient id="undoG" x1="0" y1="0" x2="1" y2="0.6"><stop offset="0" stop-color="#8aaad4"/><stop offset="0.5" stop-color="#5a84c0"/><stop offset="1" stop-color="#1f4a8a"/></linearGradient>
</defs>
<rect x="5.5" y="5" width="12" height="11.8" rx="1" fill="#fff" stroke="#ddd" stroke-width="0.5"/>
<path d="M6.8 8.2Q9.5 6.6 11.8 7.6L11.4 14.4L9.8 16.4L7.6 14.2Z" fill="#1f6fc0"/><path d="M11.2 5.6Q14 5.8 15.6 7.2L13.2 12.8L12.6 11.6Z" fill="#1f6fc0"/><circle cx="16.2" cy="13" r="0.7" fill="#3a88d0"/>
<path d="M3 31.4H13V33.6L7.3 38.2H13V40.4H3V38.2L8.7 33.6H3Z" fill="#1d6ec8"/>
<path d="M14.5 31.4H26V33.5H17.3V35.1H24.6V37.1H17.3V40.4H14.5Z" fill="#1d6ec8"/>
<rect x="3" y="35.6" width="23" height="0.7" fill="#e8eef8" opacity="0.7"/>
<text x="3" y="45.3" font-size="3.6" fill="#444" font-family="Liberation Sans" textLength="23" lengthAdjust="spacingAndGlyphs">Zoller Fröhlich</text>
<path d="M32.6 34.2L40 32.6L42 33.8L53.2 31.4L55.2 45.6L35.2 49.2Z" fill="url(#foldG)" stroke="#b6a8c8" stroke-width="0.6"/>
<rect x="62.4" y="30.4" width="20.2" height="18.4" fill="#ececec" stroke="#8c8c8c" stroke-width="0.8"/>
<rect x="62" y="30" width="21" height="2.8" fill="#7c7c7c"/>
<rect x="62" y="30" width="6" height="19" fill="#888"/>
<path d="M89.6 32.2H96.6C96.2 31.4 95.2 30.6 95.4 29.2C95.8 27.6 97 27.3 98.2 27.3C99.4 27.3 100.8 27.6 101.1 29.2C101.3 30.6 100.2 31.4 99.8 32.2H106.8V38C107.6 37.5 108.2 37.1 109.4 37.2C111.2 37.5 111.6 39.2 111.6 40.4C111.6 41.6 111.2 43.1 109.4 43.3C108.2 43.4 107.6 43 106.8 42.5V49.5H100.6C101.2 48.8 101.8 48 101.4 46.6C101 45 99.6 44.4 98.4 44.4C97.2 44.4 95.8 45 95.4 46.6C95 48 95.6 48.8 96.2 49.5H89.6V43.2C90.4 43.6 91 43.8 92 43.4C93.4 42.8 93.6 41.2 93.6 40.2C93.6 39.2 93.4 37.5 92 37C91 36.6 90.4 36.8 89.6 37.2Z" fill="url(#purpG)" stroke="#151015" stroke-width="1.15" stroke-linejoin="round"/>
<path d="M133.2 28.4Q134 28.2 134 29.2V48.6Q134 49.6 133.2 49.2L121.6 39.4Q120.8 38.6 121.6 37.9Z" fill="url(#triG)" stroke="#5a2a72" stroke-width="1.1" stroke-linejoin="round"/>
<rect x="144.5" y="31.5" width="75" height="14.5" fill="#e1e1e1" stroke="#adadad" stroke-width="1"/>
<path d="M209.6 37H215.8L212.7 40.4Z" fill="#000"/>
<path d="M228.4 28.4Q227.6 28.2 227.6 29.2V48.8Q227.6 49.8 228.4 49.4L241 39.4Q241.8 38.6 241 37.9Z" fill="url(#triG2)" stroke="#5a2a72" stroke-width="1.1" stroke-linejoin="round"/>
<rect x="257.4" y="33.6" width="16.2" height="16.6" rx="3" fill="#fff" stroke="#555" stroke-width="1.3"/>
<path d="M259.5 36.3H271.5M259.5 47.6H271.5" stroke="#e0e0e0" stroke-width="0.6"/>
<path d="M251.2 27.3L251.7 37.8L254.3 35.6L258.6 41.3L260.8 39.8L256.8 34.3L260 33.6Z" fill="#f4f4f4" stroke="#505050" stroke-width="0.75" stroke-linejoin="round"/>
<text x="266" y="44.4" font-size="6.6" font-weight="bold" text-anchor="middle" fill="#111" font-family="Liberation Sans" textLength="13" lengthAdjust="spacingAndGlyphs">ESC</text>
<ellipse cx="295" cy="47" rx="8.5" ry="2" fill="#c8c8c8" opacity="0.55"/>
<path d="M281.1 41.8L285.3 28.1L287.6 30.4Q297.5 27 301.4 34.5Q303.6 41 298.6 46Q296 48.2 293.3 48.4Q297.6 44 297.2 40.8Q296.4 36.6 291.2 35.6L292.4 37.6Z" fill="url(#undoG)"/>
<rect x="306" y="23" width="1" height="30" fill="#d0d0d0"/><rect x="307" y="23" width="1" height="30" fill="#fcfcfc"/>
<rect x="311" y="26.5" width="1" height="1" fill="#9a9a9a"/>
<rect x="311" y="28.9" width="1" height="1" fill="#9a9a9a"/>
<rect x="311" y="31.3" width="1" height="1" fill="#9a9a9a"/>
<rect x="311" y="33.7" width="1" height="1" fill="#9a9a9a"/>
<rect x="311" y="36.1" width="1" height="1" fill="#9a9a9a"/>
<rect x="311" y="38.5" width="1" height="1" fill="#9a9a9a"/>
<rect x="311" y="40.9" width="1" height="1" fill="#9a9a9a"/>
<rect x="311" y="43.3" width="1" height="1" fill="#9a9a9a"/>
<rect x="311" y="45.7" width="1" height="1" fill="#9a9a9a"/>
<rect x="311" y="48.1" width="1" height="1" fill="#9a9a9a"/>
<rect x="318.5" y="28.5" width="4" height="12.5" fill="#2f6bb5"/>
<rect x="324.5" y="28" width="4" height="12.5" fill="#3a78c2"/>
<rect x="321.5" y="30" width="3" height="12" fill="#c8c8c8"/>
<rect x="319" y="41.5" width="10" height="1.6" fill="#9a9a9a"/>
<rect x="322.2" y="45.2" width="11.8" height="4.6" fill="#7ed321" stroke="#58a818" stroke-width="0.5"/>
<rect x="328" y="32" width="12.6" height="12.6" fill="#f6f2ea" stroke="#a8c8e8" stroke-width="0.7"/>
<path d="M334.3 34.8V42.2M330.6 38.4H338" stroke="#90b8e0" stroke-width="0.8"/><ellipse cx="328.2" cy="46.6" rx="2.4" ry="0.9" fill="#e8f8d8"/>
<path d="M326 30.5Q333 26 337 32" stroke="#f08a24" stroke-width="1.4" fill="none"/><path d="M335 31.5L338.5 33L338.5 29.5Z" fill="#f08a24"/>
<path d="M347 27.4H353.4L350.2 30.599999999999998ZM347 33.8H353.4L350.2 30.599999999999998Z" fill="#000"/>
<rect x="358.9" y="29.8" width="6.1" height="7.4" rx="1.5" fill="#58a820"/><rect x="361.2" y="30.2" width="1.5" height="7" fill="#e8f0e0"/><rect x="359.8" y="37.2" width="4.4" height="1.6" fill="#888"/>
<path d="M361.9 38.6L355.3 49.5M361.9 38.6L359.5 48.3M361.9 38.6L368.6 49.2" stroke="#444" stroke-width="0.75"/>
<path d="M376 38H386.6L381.3 43.5ZM376 49H386.6L381.3 43.5Z" fill="#000"/>
<path d="M381.5 33H391.5L386.5 38.25ZM381.5 43.5H391.5L386.5 38.25Z" fill="#000"/>
<path d="M387.5 28.3H397.6L392.55 33.8ZM387.5 39.3H397.6L392.55 33.8Z" fill="#000"/>
<circle cx="414.8" cy="38.8" r="10.9" fill="#fff" stroke="#9a9a9a" stroke-width="0.5"/>
<path d="M407.30 31.30A10.6 10.6 0 0 1 422.30 31.30L419.25 34.35A6.3 6.3 0 0 0 410.35 34.35Z" fill="#000"/>
<path d="M422.30 46.30A10.6 10.6 0 0 1 407.30 46.30L410.35 43.25A6.3 6.3 0 0 0 419.25 43.25Z" fill="#a0a0a0"/>
<path d="M422.30 31.30A10.6 10.6 0 0 1 422.30 46.30L419.25 43.25A6.3 6.3 0 0 0 419.25 34.35Z" fill="#d8d8d8"/>
<path d="M414.8 38.8L410.35 34.35A6.3 6.3 0 0 0 410.35 43.25ZM414.8 38.8L419.25 34.35A6.3 6.3 0 0 1 419.25 43.25Z" fill="#000"/>
<rect x="434" y="28" width="20" height="21" fill="#f8f8f8"/>
<path d="M434.2 28.5H453.8L444.0 38.75ZM434.2 49H453.8L444.0 38.75Z" fill="#6a6a6a"/>
<path d="M466.6 31.8H478.4L472.5 38.4ZM466.6 45H478.4L472.5 38.4Z" fill="#000"/>
<path d="M461.3 38.6H483.7M472.2 27.2V49.5" stroke="#e0141e" stroke-width="1.4"/>
<circle cx="501.2" cy="38.4" r="8.3" fill="url(#sphG)"/>
<path d="M526.5 28.6H530.5L528.5 30.6ZM526.5 32.6H530.5L528.5 30.6Z" fill="#222"/>
<path d="M521.2 35.6H526.2L523.7 38.2ZM521.2 40.800000000000004H526.2L523.7 38.2Z" fill="#222"/>
<path d="M532.4 34.2H537.4L534.9 36.7ZM532.4 39.2H537.4L534.9 36.7Z" fill="#222"/>
<path d="M520.6 44H526.2L523.4000000000001 47.0ZM520.6 50H526.2L523.4000000000001 47.0Z" fill="#222"/>
<path d="M531.2 41.4H536.4000000000001L533.8000000000001 44.2ZM531.2 47.0H536.4000000000001L533.8000000000001 44.2Z" fill="#222"/>
<path d="M557.5 28.2H565L569 32.2V43.2H557.5Z" fill="#f4f4f4" stroke="#777" stroke-width="0.7"/>
<rect x="559" y="33.5" width="8" height="0.8" fill="#888"/>
<rect x="559" y="35.5" width="8" height="0.8" fill="#888"/>
<rect x="559" y="37.5" width="8" height="0.8" fill="#888"/>
<rect x="559" y="39.5" width="8" height="0.8" fill="#888"/>
<rect x="559" y="41.5" width="8" height="0.8" fill="#888"/>
<rect x="548" y="36" width="12.5" height="14" fill="#fff"/>
<path d="M548.4 36.4H560.2L554.3 43.0ZM548.4 49.6H560.2L554.3 43.0Z" fill="#000"/>
<rect x="574.5" y="27" width="1" height="23" fill="#cfcfcf"/>
<rect x="582" y="30" width="7" height="9" transform="rotate(-30 585.5 34.5)" fill="none" stroke="#4a80c8" stroke-width="0.8" stroke-dasharray="1.4 0.8"/>
<rect x="595.5" y="27.8" width="7.5" height="9.5" fill="none" stroke="#4a80c8" stroke-width="0.8" stroke-dasharray="1.4 0.8"/>
<rect x="581" y="42" width="22" height="7.5" fill="none" stroke="#4a80c8" stroke-width="0.8" stroke-dasharray="1.4 0.8"/>
<path d="M591.6 33L597.6 39.2L591.6 45.4L585.6 39.2Z" fill="#555"/><circle cx="591.6" cy="39.2" r="1.6" fill="#ddd"/>
<path d="M609.2 28H615.4L612.3 30.9ZM609.2 33.8H615.4L612.3 30.9Z" fill="#000"/>
<path d="M625.2 28H631.4L628.3 30.9ZM625.2 33.8H631.4L628.3 30.9Z" fill="#000"/>
<circle cx="620.2" cy="41.6" r="8.6" fill="url(#globeG)"/><path d="M612.4000000000001 40.6Q613.7 35.6 616.7 34.0L619.2 34.6Q618.7 37.1 617.0 38.4Q616.6 42.1 615.4000000000001 43.800000000000004Q613.6 45.2 612.8000000000001 44.1Z" fill="#78e032"/><path d="M617.8000000000001 46.2Q621.0 45.6 623.0 47.2Q622.4000000000001 49.6 620.8000000000001 50.2Q618.6 49.0 617.8000000000001 46.2Z" fill="#6ee028"/><path d="M626.0 36.0Q628.6 38.6 628.6 42.6Q628.4000000000001 45.6 626.8000000000001 46.0Q627.6 41.6 626.0 36.0Z" fill="#6ee028"/><ellipse cx="618.7" cy="37.6" rx="4" ry="2.6" fill="#cfe8ff" opacity="0.35"/>
<path d="M637.8 33.3Q637.2 30.6 640 30.3Q641.4 27.6 644.6 28.6Q647 28 648.6 30.8Q650.6 29.8 652.6 30.1Q654.6 27.4 657.8 28.8Q661 29.4 660.8 32.4Q660 33.6 658 33.4H639.5Z" fill="#f4f4f4" stroke="#b8b8b8" stroke-width="0.6"/>
<circle cx="648.8" cy="41.6" r="8.6" fill="url(#globeG)"/><path d="M641.0 40.6Q642.3 35.6 645.3 34.0L647.8 34.6Q647.3 37.1 645.5999999999999 38.4Q645.1999999999999 42.1 644.0 43.800000000000004Q642.1999999999999 45.2 641.4 44.1Z" fill="#78e032"/><path d="M646.4 46.2Q649.5999999999999 45.6 651.5999999999999 47.2Q651.0 49.6 649.4 50.2Q647.1999999999999 49.0 646.4 46.2Z" fill="#6ee028"/><path d="M654.5999999999999 36.0Q657.1999999999999 38.6 657.1999999999999 42.6Q657.0 45.6 655.4 46.0Q656.1999999999999 41.6 654.5999999999999 36.0Z" fill="#6ee028"/><ellipse cx="647.3" cy="37.6" rx="4" ry="2.6" fill="#cfe8ff" opacity="0.35"/>
<path d="M666 29.5H672.5V31.5H669V33L666 33.5Z M681.5 29H688.5V31H685.5V32.5L682 33Z" fill="#6a90c8" opacity="0.85"/>
<path d="M667 32.5l1 1.5M670 32.5l1 1.5M683 32l1 1.5M686 32l1 1.5" stroke="#6a90c8" stroke-width="0.6"/>
<circle cx="677.4" cy="41.6" r="8.6" fill="url(#globeG)"/><path d="M669.6 40.6Q670.9 35.6 673.9 34.0L676.4 34.6Q675.9 37.1 674.1999999999999 38.4Q673.8 42.1 672.6 43.800000000000004Q670.8 45.2 670.0 44.1Z" fill="#78e032"/><path d="M675.0 46.2Q678.1999999999999 45.6 680.1999999999999 47.2Q679.6 49.6 678.0 50.2Q675.8 49.0 675.0 46.2Z" fill="#6ee028"/><path d="M683.1999999999999 36.0Q685.8 38.6 685.8 42.6Q685.6 45.6 684.0 46.0Q684.8 41.6 683.1999999999999 36.0Z" fill="#6ee028"/><ellipse cx="675.9" cy="37.6" rx="4" ry="2.6" fill="#cfe8ff" opacity="0.35"/>
<path d="M697.5 27.6H702.5L700.0 30.1ZM697.5 32.6H702.5L700.0 30.1Z" fill="#000"/>
<path d="M707.5 27.6H712.5L710.0 30.1ZM707.5 32.6H712.5L710.0 30.1Z" fill="#000"/>
<circle cx="697.5" cy="34" r="1.7" fill="#28a8e0"/><circle cx="705" cy="30.2" r="1.7" fill="#28a8e0"/><circle cx="714.8" cy="34" r="1.7" fill="#28a8e0"/>
<circle cx="706" cy="41.6" r="8.6" fill="url(#globeG)"/><path d="M698.2 40.6Q699.5 35.6 702.5 34.0L705 34.6Q704.5 37.1 702.8 38.4Q702.4 42.1 701.2 43.800000000000004Q699.4 45.2 698.6 44.1Z" fill="#78e032"/><path d="M703.6 46.2Q706.8 45.6 708.8 47.2Q708.2 49.6 706.6 50.2Q704.4 49.0 703.6 46.2Z" fill="#6ee028"/><path d="M711.8 36.0Q714.4 38.6 714.4 42.6Q714.2 45.6 712.6 46.0Q713.4 41.6 711.8 36.0Z" fill="#6ee028"/><ellipse cx="704.5" cy="37.6" rx="4" ry="2.6" fill="#cfe8ff" opacity="0.35"/>
<circle cx="731.4" cy="42" r="8.6" fill="url(#sphG2)"/>
<circle cx="742.8" cy="30" r="0.9" fill="#555"/><path d="M741 34.2H744V48.6H745.8V49.8H740.2V48.6H742V35.4H741Z" fill="#777"/>
<path d="M753.5 48.6V30" stroke="#1e5fd8" stroke-width="1.2"/><path d="M751.8 31L753.5 27.4L755.2 31Z" fill="#1e5fd8"/>
<path d="M753 48.6H773" stroke="#e0141e" stroke-width="1.2"/><path d="M772 46.9L775.6 48.6L772 50.3Z" fill="#e0141e"/>
<path d="M753.5 48.6L768 36" stroke="#5bd21a" stroke-width="1.1"/>
<path d="M762.6 39.8V30" stroke="#5a8ee0" stroke-width="1"/><path d="M761.3 30.8L762.6 28L763.9 30.8Z" fill="#5a8ee0"/>
<path d="M762.6 39.8H773" stroke="#e0141e" stroke-width="0.9"/><path d="M772.4 38.6L775 39.8L772.4 41Z" fill="#e0141e"/>
<path d="M762.6 39.8L767.8 32.6" stroke="#5bd21a" stroke-width="0.9"/>
<rect x="780" y="27" width="1" height="22" fill="#cfcfcf"/>
<ellipse cx="794.5" cy="32.2" rx="8.3" ry="4.3" fill="none" stroke="#e06c6c" stroke-width="1.3" stroke-dasharray="0.8 0.7" opacity="0.8"/><ellipse cx="794.5" cy="32.2" rx="5" ry="2.2" fill="#f0b0b0" opacity="0.7"/>
<ellipse cx="800.5" cy="38.5" rx="8.3" ry="4" fill="none" stroke="#90d860" stroke-width="1.3" stroke-dasharray="0.8 0.7" opacity="0.8"/><ellipse cx="800.5" cy="38.5" rx="5" ry="2" fill="#c8ecb0" opacity="0.7"/>
<ellipse cx="794.5" cy="45.2" rx="8.3" ry="4.2" fill="none" stroke="#7898d0" stroke-width="1.3" stroke-dasharray="0.8 0.7" opacity="0.8"/><ellipse cx="794.5" cy="45.2" rx="5" ry="2.2" fill="#b8c8e8" opacity="0.7"/>
<rect x="812" y="23" width="1" height="30" fill="#d0d0d0"/><rect x="813" y="23" width="1" height="30" fill="#fcfcfc"/>
<rect x="816.5" y="26.5" width="1" height="1" fill="#9a9a9a"/>
<rect x="816.5" y="28.9" width="1" height="1" fill="#9a9a9a"/>
<rect x="816.5" y="31.3" width="1" height="1" fill="#9a9a9a"/>
<rect x="816.5" y="33.7" width="1" height="1" fill="#9a9a9a"/>
<rect x="816.5" y="36.1" width="1" height="1" fill="#9a9a9a"/>
<rect x="816.5" y="38.5" width="1" height="1" fill="#9a9a9a"/>
<rect x="816.5" y="40.9" width="1" height="1" fill="#9a9a9a"/>
<rect x="816.5" y="43.3" width="1" height="1" fill="#9a9a9a"/>
<rect x="816.5" y="45.7" width="1" height="1" fill="#9a9a9a"/>
<rect x="816.5" y="48.1" width="1" height="1" fill="#9a9a9a"/>
<circle cx="833.5" cy="40.3" r="9.8" fill="#fbf4fb" stroke="#b050c0" stroke-width="0.6"/><path d="M833.50 40.30L833.81 39.12L834.67 38.15L835.96 37.57L837.54 37.53L839.23 38.13L840.79 39.38L842.02 41.26L842.71 43.66L838.38 48.80L839.92 45.99L840.27 43.16L839.61 40.76L838.25 39.09L836.58 38.30L835.02 38.38L833.92 39.15L833.50 40.30Z" fill="#e848f0"/><path d="M833.50 40.30L834.68 39.98L835.95 40.23L837.09 41.07L837.92 42.42L838.24 44.17L837.94 46.16L836.93 48.16L835.19 49.95L828.58 48.77L831.78 48.70L834.41 47.59L836.16 45.82L836.92 43.81L836.77 41.97L835.92 40.66L834.71 40.08L833.50 40.30Z" fill="#c020d8"/><path d="M833.50 40.30L834.37 41.16L834.78 42.39L834.63 43.80L833.87 45.19L832.52 46.35L830.65 47.07L828.41 47.20L825.99 46.59L823.70 40.27L825.37 43.02L827.64 44.73L830.05 45.36L832.18 45.02L833.69 43.97L834.40 42.58L834.29 41.24L833.50 40.30Z" fill="#8a10a0"/><path d="M833.50 40.30L833.19 41.48L832.33 42.45L831.04 43.03L829.46 43.07L827.77 42.47L826.21 41.22L824.98 39.34L824.29 36.94L828.62 31.80L827.08 34.61L826.73 37.44L827.39 39.84L828.75 41.51L830.42 42.30L831.98 42.22L833.08 41.45L833.50 40.30Z" fill="#600070"/><path d="M833.50 40.30L832.32 40.62L831.05 40.37L829.91 39.53L829.08 38.18L828.76 36.43L829.06 34.44L830.07 32.44L831.81 30.65L838.42 31.83L835.22 31.90L832.59 33.01L830.84 34.78L830.08 36.79L830.23 38.63L831.08 39.94L832.29 40.52L833.50 40.30Z" fill="#f0a0f4"/><path d="M833.50 40.30L832.63 39.44L832.22 38.21L832.37 36.80L833.13 35.41L834.48 34.25L836.35 33.53L838.59 33.40L841.01 34.01L843.30 40.33L841.63 37.58L839.36 35.87L836.95 35.24L834.82 35.58L833.31 36.63L832.60 38.02L832.71 39.36L833.50 40.30Z" fill="#e070ec"/><circle cx="833.5" cy="40.3" r="9.8" fill="none" stroke="#a040b8" stroke-width="0.7"/>
<path d="M837.6 27.4Q837.8 26.6 838.6 27.1L846 33.4Q846.6 34 845.8 34.6L838.6 38.2Q837.8 38.6 837.8 37.8Z" fill="url(#arrG)" stroke="#a080b0" stroke-width="0.4"/>
<circle cx="863.6" cy="38.8" r="11.7" fill="#fbf4fb" stroke="#b050c0" stroke-width="0.6"/><path d="M863.60 38.80L863.97 37.39L864.99 36.23L866.54 35.54L868.43 35.50L870.44 36.21L872.31 37.71L873.77 39.95L874.59 42.81L869.42 48.95L871.26 45.59L871.68 42.22L870.89 39.35L869.27 37.35L867.28 36.41L865.42 36.51L864.10 37.42L863.60 38.80Z" fill="#e848f0"/><path d="M863.60 38.80L865.01 38.42L866.52 38.72L867.89 39.71L868.87 41.33L869.26 43.42L868.90 45.79L867.69 48.18L865.62 50.32L857.72 48.92L861.55 48.83L864.68 47.51L866.77 45.39L867.69 42.99L867.51 40.80L866.49 39.23L865.04 38.54L863.60 38.80Z" fill="#c020d8"/><path d="M863.60 38.80L864.64 39.83L865.13 41.29L864.95 42.97L864.05 44.63L862.43 46.02L860.19 46.89L857.52 47.04L854.63 46.31L851.90 38.77L853.89 42.04L856.60 44.09L859.48 44.84L862.02 44.43L863.83 43.18L864.68 41.52L864.54 39.92L863.60 38.80Z" fill="#8a10a0"/><path d="M863.60 38.80L863.23 40.21L862.21 41.37L860.66 42.06L858.77 42.10L856.76 41.39L854.89 39.89L853.43 37.65L852.61 34.79L857.78 28.65L855.94 32.01L855.52 35.38L856.31 38.25L857.93 40.25L859.92 41.19L861.78 41.09L863.10 40.18L863.60 38.80Z" fill="#600070"/><path d="M863.60 38.80L862.19 39.18L860.68 38.88L859.31 37.89L858.33 36.27L857.94 34.18L858.30 31.81L859.51 29.42L861.58 27.28L869.48 28.68L865.65 28.77L862.52 30.09L860.43 32.21L859.51 34.61L859.69 36.80L860.71 38.37L862.16 39.06L863.60 38.80Z" fill="#f0a0f4"/><path d="M863.60 38.80L862.56 37.77L862.07 36.31L862.25 34.63L863.15 32.97L864.77 31.58L867.01 30.71L869.68 30.56L872.57 31.29L875.30 38.83L873.31 35.56L870.60 33.51L867.72 32.76L865.18 33.17L863.37 34.42L862.52 36.08L862.66 37.68L863.60 38.80Z" fill="#e070ec"/><circle cx="863.6" cy="38.8" r="11.7" fill="none" stroke="#a040b8" stroke-width="0.7"/>
<text x="146.4" y="41.7" font-size="9.2" letter-spacing="-0.3" fill="#111" font-family="Liberation Sans">Register</text>
<path d="M231 703.5V713.5H235M231 708H235M233 710V722.5H235.5M233 714.5H235.5M233 717.5H235.5M233 720.5H235.5" stroke="#6a8cc0" stroke-width="0.6" fill="none"/>
<rect x="232" y="701.8" width="6.6" height="2.2" rx="0.6" fill="#5a8ad0"/>
<rect x="234.8" y="706.5" width="10" height="2.2" rx="0.6" fill="#5a8ad0"/>
<rect x="235.2" y="712.3" width="10" height="2.2" rx="0.6" fill="#5a8ad0"/>
<rect x="235.2" y="715.6" width="10" height="2.2" rx="0.6" fill="#5a8ad0"/>
<rect x="235.2" y="718.8" width="10" height="2.2" rx="0.6" fill="#5a8ad0"/>
<rect x="235.2" y="722" width="10" height="2.2" rx="0.6" fill="#5a8ad0"/>
<path d="M262.8 700.8V716.4H278.8M262.8 716.4L255.6 723.8" stroke="#c9a010" stroke-width="0.5" fill="none" opacity="0.6"/><rect x="255.6" y="708.1999999999999" width="16" height="15.6" fill="#e04848"/><path d="M255.6 708.1999999999999H271.6V723.8H255.6ZM255.6 708.1999999999999L262.8 700.8H278.8L271.6 708.1999999999999M278.8 700.8V716.4L271.6 723.8" stroke="#c9a010" stroke-width="1.1" fill="none" stroke-linejoin="round"/>
<text x="263.8" y="721" font-size="11.5" font-weight="bold" text-anchor="middle" fill="#f8e418" font-family="Liberation Sans">X</text>
<path d="M271.6 708.2L278.8 700.8V716.4L271.6 723.8Z" fill="#fff" opacity="0.3"/>
<path d="M291.0 700.8V716.4H307.0M291.0 716.4L283.8 723.8" stroke="#c9a010" stroke-width="0.5" fill="none" opacity="0.6"/><path d="M299.8 708.1999999999999L307.0 700.8V716.4L299.8 723.8Z" fill="#58c030"/><path d="M283.8 708.1999999999999H299.8V723.8H283.8ZM283.8 708.1999999999999L291.0 700.8H307.0L299.8 708.1999999999999M307.0 700.8V716.4L299.8 723.8" stroke="#c9a010" stroke-width="1.1" fill="none" stroke-linejoin="round"/>
<text x="303" y="716" font-size="8" font-weight="bold" text-anchor="middle" fill="#f0e020" font-family="Liberation Sans" transform="skewY(-40 303 715)">Y</text>
<path d="M320.2 700.8V716.4H336.2M320.2 716.4L313 723.8" stroke="#c9a010" stroke-width="0.5" fill="none" opacity="0.6"/><path d="M313 708.1999999999999L320.2 700.8H336.2L329 708.1999999999999Z" fill="#2858b8"/><path d="M313 708.1999999999999H329V723.8H313ZM313 708.1999999999999L320.2 700.8H336.2L329 708.1999999999999M336.2 700.8V716.4L329 723.8" stroke="#c9a010" stroke-width="1.1" fill="none" stroke-linejoin="round"/>
<path d="M319 704.5H327L322 706.6H330" stroke="#f5e020" stroke-width="1.2" fill="none"/>
<rect x="340.5" y="701" width="1" height="23" fill="#d4d4d4"/>
<rect x="344.2" y="698.8" width="28" height="26.4" fill="#cce4f7" stroke="#99c9ef" stroke-width="0.8"/>
<path d="M354.4 701.6V717.2H370.4M354.4 717.2L347.2 724.6" stroke="#c9a010" stroke-width="0.5" fill="none" opacity="0.6"/><path d="M347.2 709.0H363.2V724.6H347.2ZM347.2 709.0L354.4 701.6H370.4L363.2 709.0M370.4 701.6V717.2L363.2 724.6" stroke="#c9a010" stroke-width="1.1" fill="none" stroke-linejoin="round"/>
<path d="M349.5 711.5H363V724.3H349.5ZM349.5 711.5L356 705H369M363 711.5L369 705V718L363 724.3" stroke="#e07820" stroke-width="1" fill="none"/>
<rect x="349.8" y="711.8" width="13" height="12.2" fill="#d8e8f4" opacity="0.6"/>
<path d="M385.8 701.4L395.4 706.8V718.2L385.8 723.6L376.2 718.2V706.8Z" stroke="#9a8a10" stroke-width="1.2" fill="none"/>
<path d="M385.8 701.4V723.6M376.2 706.8L395.4 718.2M395.4 706.8L376.2 718.2" stroke="#9a8a10" stroke-width="1"/>
<circle cx="409.6" cy="705.6" r="1.05" fill="#111"/>
<circle cx="417.8" cy="703.8" r="1.05" fill="#111"/>
<circle cx="423.2" cy="710.2" r="1.05" fill="#111"/>
<circle cx="406.7" cy="713.2" r="1.05" fill="#111"/>
<circle cx="415" cy="712.4" r="1.05" fill="#111"/>
<circle cx="411.8" cy="720" r="1.05" fill="#111"/>
<circle cx="420.3" cy="718.8" r="1.05" fill="#111"/>
<path d="M432.3 706.2L437 701.4H454A1.3 1.3 0 0 1 455.3 702.7V722.5A1.3 1.3 0 0 1 454 723.8H433.6A1.3 1.3 0 0 1 432.3 722.5Z" fill="url(#eyeG)" stroke="#333" stroke-width="0.7"/>
<path d="M432.6 713Q443 700.5 455.2 710.5Q444.5 722 432.6 713Z" fill="#fff" stroke="#111" stroke-width="1.3"/><path d="M433.5 711.5Q443 702 455 710.3Q444 705.5 433.5 711.5Z" fill="#111"/>
<circle cx="444" cy="712.4" r="4.9" fill="url(#irisG)"/><circle cx="444" cy="712.4" r="2" fill="#0a1830"/><circle cx="445.2" cy="710.8" r="1" fill="#fff"/>
<path d="M465.4 702V718.4L469.3 714.8L473.3 723.2L476.5 721.7L472.6 713.6L479.4 713.2Z" fill="#fff" stroke="#3a3a3a" stroke-width="0.95" stroke-linejoin="round"/>
<rect x="1459.2" y="58.2" width="15" height="15.4" fill="#6a7a8a" opacity="0.85"/>
<path d="M1467 61.6H1463A2 2 0 0 0 1461 63.6V69.8A2 2 0 0 0 1463 71.8H1469.6A2 2 0 0 0 1471.6 69.8V66" stroke="#111" stroke-width="1.6" fill="#8e9eae"/>
<path d="M1466.2 66.6L1471.4 61.2" stroke="#111" stroke-width="1.6"/><path d="M1468.4 59.4H1473.6V64.6Z" fill="#111"/>
<rect x="1463.3" y="729" width="0.8" height="16" fill="#dcdcdc"/>
<rect x="1475" y="739" width="0.8" height="0.8" fill="#999"/>
<rect x="1473.5" y="741" width="0.8" height="0.8" fill="#999"/>
<rect x="1475" y="741" width="0.8" height="0.8" fill="#999"/>
<rect x="1472" y="743" width="0.8" height="0.8" fill="#999"/>
<rect x="1473.5" y="743" width="0.8" height="0.8" fill="#999"/>
<rect x="1475" y="743" width="0.8" height="0.8" fill="#999"/>
</svg>
</body></html>
